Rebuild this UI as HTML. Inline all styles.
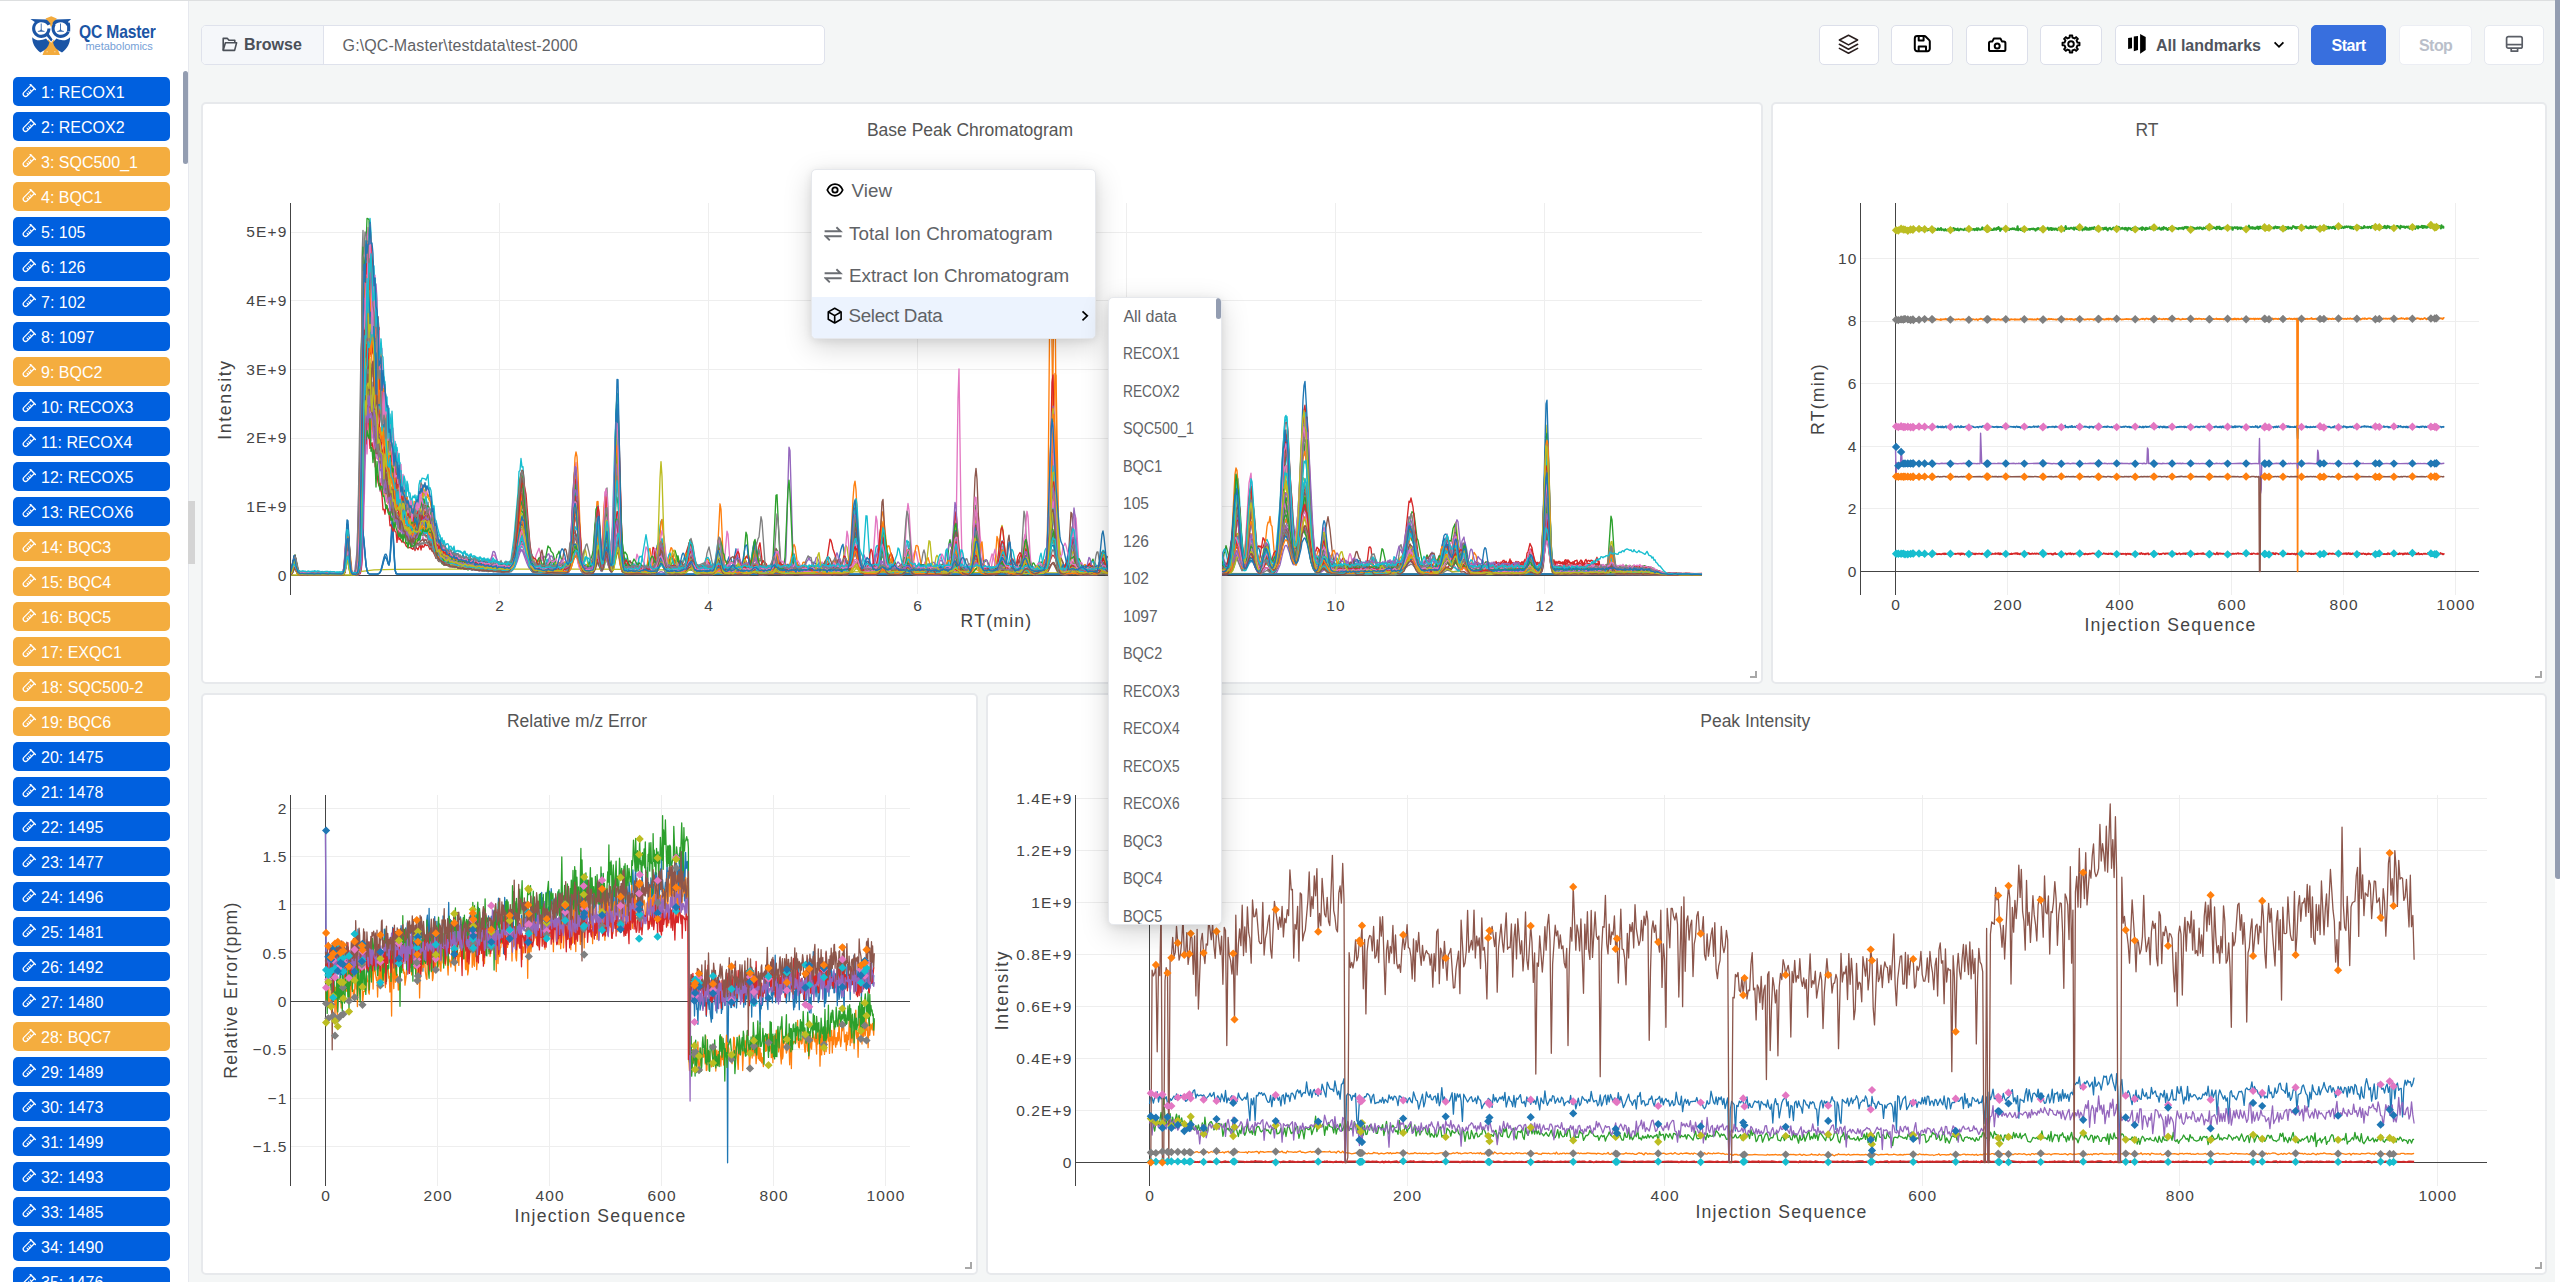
<!DOCTYPE html>
<html lang="en"><head><meta charset="utf-8"><title>QC Master</title>
<style>
*{box-sizing:border-box;margin:0;padding:0}
html,body{width:2560px;height:1282px;overflow:hidden;background:#f4f6f6;font-family:"Liberation Sans",sans-serif;}
body{position:relative}
.abs{position:absolute}
#topline{left:0;top:0;width:2560px;height:1px;background:#dddfe0}
#side{left:0;top:1px;width:189px;height:1281px;background:#fff;border-right:1px solid #e6e8ee;overflow:hidden}
.it{position:absolute;left:13px;width:157px;height:29px;border-radius:5px;color:#fff;font-size:16px;line-height:29px;white-space:nowrap}
.it.b{background:#0060df}
.it.o{background:#f4ad3f}
.it svg{position:absolute;left:8px;top:6.5px;width:15px;height:15px;fill:#fff}
.it span{position:absolute;left:28px;top:0.5px}
#sthumb{left:183.2px;top:71px;width:4.6px;height:93px;border-radius:3px;background:#939db1}
#handle{left:188px;top:501px;width:7px;height:63px;background:#d4d4d4}
#vthumb{left:2555px;top:0;width:6px;height:879px;border-radius:0 0 3px 3px;background:#939db1}
#vtrack{left:2555px;top:0;width:5px;height:1282px;background:#fff}
.panel{position:absolute;background:#fff;border:2px solid #e7e9ec;border-radius:5px}
.rh{position:absolute;right:3.9px;bottom:3.6px;width:7px;height:7px;border-right:2px solid #a8a8a8;border-bottom:2px solid #a8a8a8}
.btn{position:absolute;top:25px;height:39.6px;background:#fff;border:1px solid #dcdfea;border-radius:5px}
.btn svg{position:absolute}
#browse{left:201px;top:25px;width:624px;height:40px;border:1px solid #dfe2ec;border-radius:5px;background:#fff;overflow:hidden}
#browse .lab{position:absolute;left:0;top:0;width:122px;height:38px;background:#f5f7fa;border-right:1px solid #dfe2ec}
#browse .lab b{position:absolute;left:42px;top:9px;font-size:16px;line-height:20px;color:#4b5058}
#browse .val{position:absolute;left:140.6px;top:9.6px;font-size:16px;letter-spacing:.1px;line-height:20px;color:#606266;white-space:nowrap}
.ptitle{position:absolute;font-size:17.5px;color:#555;white-space:nowrap;transform:translateX(-50%);line-height:20px}
svg text{font-family:"Liberation Sans",sans-serif}
#menu{left:810.8px;top:168.8px;width:285px;height:169.8px;background:#fff;border:1px solid #e6e8ec;border-radius:5px;box-shadow:0 8px 28px rgba(0,0,0,.17),0 2px 8px rgba(0,0,0,.08);z-index:10;overflow:hidden}
#menu .row{position:absolute;left:0;width:285px;height:42px;font-size:18.8px;letter-spacing:.1px;color:#606266;white-space:nowrap}
#menu .row span{position:absolute;left:37.2px;top:9.4px;line-height:24px}
#menu .row svg{position:absolute}
#menu .hl{background:#ecf3fe}
#sub{left:1108.4px;top:296.6px;width:113.2px;height:628px;background:#fff;border:1px solid #e6e8ec;border-radius:5px;box-shadow:0 8px 28px rgba(0,0,0,.17),0 2px 8px rgba(0,0,0,.08);z-index:11;overflow:hidden}
#sub div{position:absolute;left:14px;font-size:16px;line-height:20px;color:#606266;white-space:nowrap;transform-origin:left center}
#sub i{position:absolute;left:106.2px;top:0;width:5.6px;height:21px;border-radius:3px;background:#939db1}
</style></head><body>

<div id="topline" class="abs"></div>
<div id="side" class="abs">
<svg class="abs" style="left:28px;top:13px" width="48" height="44" viewBox="28 14 48 44">
<g fill="#f3ab3d">
<path d="M51.2,16.3 L56.8,18.6 L52.6,24.6 L51.2,27.5 L49.8,24.6 L45.6,18.6Z"/>
<path d="M48.4,39.5 L51.2,42.8 L54,39.5 L59.9,55 L42.5,55Z"/>
</g>
<g fill="#1b55a5">
<path d="M30.4,19 L46,19.4 C48,20.3 49.6,22 50.6,24 L47.6,25.4 C46.2,23.2 43.9,22.2 41.3,22.2 C38,22.2 35.2,24.6 35.2,28.4 C35.2,32 38,34.8 41.3,34.8 C44.6,34.8 47.4,32.3 47.4,28.6 L50.4,28.6 C50.4,30.6 50,32.4 48.9,33.9 L52.6,39.6 L51.2,41.6 L46.8,36.2 C45.2,37.3 43.3,37.9 41.3,37.9 C36.2,37.9 32.1,33.7 32.1,28.5 C32.1,25.9 33.1,23.6 34.8,21.9Z"/>
<path d="M71.2,19 L56.4,19.4 C54.6,20.2 53.2,21.6 52.3,23.2 L55,24.8 C56.3,23.1 58.4,22.2 60.7,22.2 C63.4,22.2 65.6,23.6 66.6,25.8 L69.6,24.6 C69.2,23.6 68.6,22.7 67.9,21.9Z M66.9,31.2 C65.9,33.3 63.5,34.8 60.7,34.8 C57.3,34.8 54.6,32 54.6,28.5 C54.6,27.2 55,26 55.6,25 L53,23.4 C52.1,24.9 51.6,26.6 51.6,28.5 C51.6,33.7 55.7,37.9 60.7,37.9 C64.7,37.9 68.2,35.6 69.6,32.2Z"/>
<path d="M66.6,23 L69.6,22.4 C70.2,24 70.4,26 70.2,31.4 L67,31.6 C67.3,28 67.2,25 66.6,23Z"/>
<path d="M32.2,37.2 C35,40.6 40.6,41.4 46,38.6 L49.4,42.4 C48.6,46.6 45.6,50 40.4,52.4 C35,48.6 32.2,43.4 32.2,37.2Z"/>
<path d="M70.1,37.2 C67.3,40.6 61.7,41.4 56.4,38.6 L53,42.4 C53.8,46.6 56.8,50 62,52.4 C67.4,48.6 70.1,43.4 70.1,37.2Z"/>
<path d="M40.75,23.6h.9v5.6c.3,1 1.2,1.6 2.9,1.9v.7h-6.7v-.7c1.7,-.3 2.6,-.9 2.9,-1.9Z M60.05,23.6h.9v5.6c.3,1 1.2,1.6 2.9,1.9v.7h-6.7v-.7c1.7,-.3 2.6,-.9 2.9,-1.9Z" opacity=".9"/>
</g>
<path d="M46.5,51.2l1.6,.6l-1.2,.7Z M55.5,51.2l-1.6,.6l1.2,.7Z" fill="#fff" opacity=".8"/>
</svg>
<div class="abs" style="left:79px;top:19.8px;font-size:18.5px;font-weight:bold;color:#1b55a5;letter-spacing:-0.2px;line-height:22px;white-space:nowrap;transform:scaleX(.845);transform-origin:left center">QC Master</div>
<div class="abs" style="left:85.5px;top:38px;font-size:11px;color:#4f86cc;line-height:14px;white-space:nowrap;letter-spacing:-0.05px;opacity:.78">metabolomics</div>

<div class="it b" style="top:76px"><svg viewBox="-7.9 -7.7 16 16"><g transform="rotate(45)" fill="none" stroke="#fff" stroke-linecap="round" stroke-linejoin="round"><path d="M-3.9,-6.6H3.9" stroke-width="1.5"/><path d="M-2.5,-6.6V4.3A2.5,2.5 0 0 0 2.5,4.3V-6.6" stroke-width="1.3"/><path d="M2.5,-2.3H0.4M2.5,0.1H0.4M2.5,2.5H0.4" stroke-width="1.1"/></g></svg><span>1: RECOX1</span></div>
<div class="it b" style="top:111px"><svg viewBox="-7.9 -7.7 16 16"><g transform="rotate(45)" fill="none" stroke="#fff" stroke-linecap="round" stroke-linejoin="round"><path d="M-3.9,-6.6H3.9" stroke-width="1.5"/><path d="M-2.5,-6.6V4.3A2.5,2.5 0 0 0 2.5,4.3V-6.6" stroke-width="1.3"/><path d="M2.5,-2.3H0.4M2.5,0.1H0.4M2.5,2.5H0.4" stroke-width="1.1"/></g></svg><span>2: RECOX2</span></div>
<div class="it o" style="top:146px"><svg viewBox="-7.9 -7.7 16 16"><g transform="rotate(45)" fill="none" stroke="#fff" stroke-linecap="round" stroke-linejoin="round"><path d="M-3.9,-6.6H3.9" stroke-width="1.5"/><path d="M-2.5,-6.6V4.3A2.5,2.5 0 0 0 2.5,4.3V-6.6" stroke-width="1.3"/><path d="M2.5,-2.3H0.4M2.5,0.1H0.4M2.5,2.5H0.4" stroke-width="1.1"/></g></svg><span>3: SQC500_1</span></div>
<div class="it o" style="top:181px"><svg viewBox="-7.9 -7.7 16 16"><g transform="rotate(45)" fill="none" stroke="#fff" stroke-linecap="round" stroke-linejoin="round"><path d="M-3.9,-6.6H3.9" stroke-width="1.5"/><path d="M-2.5,-6.6V4.3A2.5,2.5 0 0 0 2.5,4.3V-6.6" stroke-width="1.3"/><path d="M2.5,-2.3H0.4M2.5,0.1H0.4M2.5,2.5H0.4" stroke-width="1.1"/></g></svg><span>4: BQC1</span></div>
<div class="it b" style="top:216px"><svg viewBox="-7.9 -7.7 16 16"><g transform="rotate(45)" fill="none" stroke="#fff" stroke-linecap="round" stroke-linejoin="round"><path d="M-3.9,-6.6H3.9" stroke-width="1.5"/><path d="M-2.5,-6.6V4.3A2.5,2.5 0 0 0 2.5,4.3V-6.6" stroke-width="1.3"/><path d="M2.5,-2.3H0.4M2.5,0.1H0.4M2.5,2.5H0.4" stroke-width="1.1"/></g></svg><span>5: 105</span></div>
<div class="it b" style="top:251px"><svg viewBox="-7.9 -7.7 16 16"><g transform="rotate(45)" fill="none" stroke="#fff" stroke-linecap="round" stroke-linejoin="round"><path d="M-3.9,-6.6H3.9" stroke-width="1.5"/><path d="M-2.5,-6.6V4.3A2.5,2.5 0 0 0 2.5,4.3V-6.6" stroke-width="1.3"/><path d="M2.5,-2.3H0.4M2.5,0.1H0.4M2.5,2.5H0.4" stroke-width="1.1"/></g></svg><span>6: 126</span></div>
<div class="it b" style="top:286px"><svg viewBox="-7.9 -7.7 16 16"><g transform="rotate(45)" fill="none" stroke="#fff" stroke-linecap="round" stroke-linejoin="round"><path d="M-3.9,-6.6H3.9" stroke-width="1.5"/><path d="M-2.5,-6.6V4.3A2.5,2.5 0 0 0 2.5,4.3V-6.6" stroke-width="1.3"/><path d="M2.5,-2.3H0.4M2.5,0.1H0.4M2.5,2.5H0.4" stroke-width="1.1"/></g></svg><span>7: 102</span></div>
<div class="it b" style="top:321px"><svg viewBox="-7.9 -7.7 16 16"><g transform="rotate(45)" fill="none" stroke="#fff" stroke-linecap="round" stroke-linejoin="round"><path d="M-3.9,-6.6H3.9" stroke-width="1.5"/><path d="M-2.5,-6.6V4.3A2.5,2.5 0 0 0 2.5,4.3V-6.6" stroke-width="1.3"/><path d="M2.5,-2.3H0.4M2.5,0.1H0.4M2.5,2.5H0.4" stroke-width="1.1"/></g></svg><span>8: 1097</span></div>
<div class="it o" style="top:356px"><svg viewBox="-7.9 -7.7 16 16"><g transform="rotate(45)" fill="none" stroke="#fff" stroke-linecap="round" stroke-linejoin="round"><path d="M-3.9,-6.6H3.9" stroke-width="1.5"/><path d="M-2.5,-6.6V4.3A2.5,2.5 0 0 0 2.5,4.3V-6.6" stroke-width="1.3"/><path d="M2.5,-2.3H0.4M2.5,0.1H0.4M2.5,2.5H0.4" stroke-width="1.1"/></g></svg><span>9: BQC2</span></div>
<div class="it b" style="top:391px"><svg viewBox="-7.9 -7.7 16 16"><g transform="rotate(45)" fill="none" stroke="#fff" stroke-linecap="round" stroke-linejoin="round"><path d="M-3.9,-6.6H3.9" stroke-width="1.5"/><path d="M-2.5,-6.6V4.3A2.5,2.5 0 0 0 2.5,4.3V-6.6" stroke-width="1.3"/><path d="M2.5,-2.3H0.4M2.5,0.1H0.4M2.5,2.5H0.4" stroke-width="1.1"/></g></svg><span>10: RECOX3</span></div>
<div class="it b" style="top:426px"><svg viewBox="-7.9 -7.7 16 16"><g transform="rotate(45)" fill="none" stroke="#fff" stroke-linecap="round" stroke-linejoin="round"><path d="M-3.9,-6.6H3.9" stroke-width="1.5"/><path d="M-2.5,-6.6V4.3A2.5,2.5 0 0 0 2.5,4.3V-6.6" stroke-width="1.3"/><path d="M2.5,-2.3H0.4M2.5,0.1H0.4M2.5,2.5H0.4" stroke-width="1.1"/></g></svg><span>11: RECOX4</span></div>
<div class="it b" style="top:461px"><svg viewBox="-7.9 -7.7 16 16"><g transform="rotate(45)" fill="none" stroke="#fff" stroke-linecap="round" stroke-linejoin="round"><path d="M-3.9,-6.6H3.9" stroke-width="1.5"/><path d="M-2.5,-6.6V4.3A2.5,2.5 0 0 0 2.5,4.3V-6.6" stroke-width="1.3"/><path d="M2.5,-2.3H0.4M2.5,0.1H0.4M2.5,2.5H0.4" stroke-width="1.1"/></g></svg><span>12: RECOX5</span></div>
<div class="it b" style="top:496px"><svg viewBox="-7.9 -7.7 16 16"><g transform="rotate(45)" fill="none" stroke="#fff" stroke-linecap="round" stroke-linejoin="round"><path d="M-3.9,-6.6H3.9" stroke-width="1.5"/><path d="M-2.5,-6.6V4.3A2.5,2.5 0 0 0 2.5,4.3V-6.6" stroke-width="1.3"/><path d="M2.5,-2.3H0.4M2.5,0.1H0.4M2.5,2.5H0.4" stroke-width="1.1"/></g></svg><span>13: RECOX6</span></div>
<div class="it o" style="top:531px"><svg viewBox="-7.9 -7.7 16 16"><g transform="rotate(45)" fill="none" stroke="#fff" stroke-linecap="round" stroke-linejoin="round"><path d="M-3.9,-6.6H3.9" stroke-width="1.5"/><path d="M-2.5,-6.6V4.3A2.5,2.5 0 0 0 2.5,4.3V-6.6" stroke-width="1.3"/><path d="M2.5,-2.3H0.4M2.5,0.1H0.4M2.5,2.5H0.4" stroke-width="1.1"/></g></svg><span>14: BQC3</span></div>
<div class="it o" style="top:566px"><svg viewBox="-7.9 -7.7 16 16"><g transform="rotate(45)" fill="none" stroke="#fff" stroke-linecap="round" stroke-linejoin="round"><path d="M-3.9,-6.6H3.9" stroke-width="1.5"/><path d="M-2.5,-6.6V4.3A2.5,2.5 0 0 0 2.5,4.3V-6.6" stroke-width="1.3"/><path d="M2.5,-2.3H0.4M2.5,0.1H0.4M2.5,2.5H0.4" stroke-width="1.1"/></g></svg><span>15: BQC4</span></div>
<div class="it o" style="top:601px"><svg viewBox="-7.9 -7.7 16 16"><g transform="rotate(45)" fill="none" stroke="#fff" stroke-linecap="round" stroke-linejoin="round"><path d="M-3.9,-6.6H3.9" stroke-width="1.5"/><path d="M-2.5,-6.6V4.3A2.5,2.5 0 0 0 2.5,4.3V-6.6" stroke-width="1.3"/><path d="M2.5,-2.3H0.4M2.5,0.1H0.4M2.5,2.5H0.4" stroke-width="1.1"/></g></svg><span>16: BQC5</span></div>
<div class="it o" style="top:636px"><svg viewBox="-7.9 -7.7 16 16"><g transform="rotate(45)" fill="none" stroke="#fff" stroke-linecap="round" stroke-linejoin="round"><path d="M-3.9,-6.6H3.9" stroke-width="1.5"/><path d="M-2.5,-6.6V4.3A2.5,2.5 0 0 0 2.5,4.3V-6.6" stroke-width="1.3"/><path d="M2.5,-2.3H0.4M2.5,0.1H0.4M2.5,2.5H0.4" stroke-width="1.1"/></g></svg><span>17: EXQC1</span></div>
<div class="it o" style="top:671px"><svg viewBox="-7.9 -7.7 16 16"><g transform="rotate(45)" fill="none" stroke="#fff" stroke-linecap="round" stroke-linejoin="round"><path d="M-3.9,-6.6H3.9" stroke-width="1.5"/><path d="M-2.5,-6.6V4.3A2.5,2.5 0 0 0 2.5,4.3V-6.6" stroke-width="1.3"/><path d="M2.5,-2.3H0.4M2.5,0.1H0.4M2.5,2.5H0.4" stroke-width="1.1"/></g></svg><span>18: SQC500-2</span></div>
<div class="it o" style="top:706px"><svg viewBox="-7.9 -7.7 16 16"><g transform="rotate(45)" fill="none" stroke="#fff" stroke-linecap="round" stroke-linejoin="round"><path d="M-3.9,-6.6H3.9" stroke-width="1.5"/><path d="M-2.5,-6.6V4.3A2.5,2.5 0 0 0 2.5,4.3V-6.6" stroke-width="1.3"/><path d="M2.5,-2.3H0.4M2.5,0.1H0.4M2.5,2.5H0.4" stroke-width="1.1"/></g></svg><span>19: BQC6</span></div>
<div class="it b" style="top:741px"><svg viewBox="-7.9 -7.7 16 16"><g transform="rotate(45)" fill="none" stroke="#fff" stroke-linecap="round" stroke-linejoin="round"><path d="M-3.9,-6.6H3.9" stroke-width="1.5"/><path d="M-2.5,-6.6V4.3A2.5,2.5 0 0 0 2.5,4.3V-6.6" stroke-width="1.3"/><path d="M2.5,-2.3H0.4M2.5,0.1H0.4M2.5,2.5H0.4" stroke-width="1.1"/></g></svg><span>20: 1475</span></div>
<div class="it b" style="top:776px"><svg viewBox="-7.9 -7.7 16 16"><g transform="rotate(45)" fill="none" stroke="#fff" stroke-linecap="round" stroke-linejoin="round"><path d="M-3.9,-6.6H3.9" stroke-width="1.5"/><path d="M-2.5,-6.6V4.3A2.5,2.5 0 0 0 2.5,4.3V-6.6" stroke-width="1.3"/><path d="M2.5,-2.3H0.4M2.5,0.1H0.4M2.5,2.5H0.4" stroke-width="1.1"/></g></svg><span>21: 1478</span></div>
<div class="it b" style="top:811px"><svg viewBox="-7.9 -7.7 16 16"><g transform="rotate(45)" fill="none" stroke="#fff" stroke-linecap="round" stroke-linejoin="round"><path d="M-3.9,-6.6H3.9" stroke-width="1.5"/><path d="M-2.5,-6.6V4.3A2.5,2.5 0 0 0 2.5,4.3V-6.6" stroke-width="1.3"/><path d="M2.5,-2.3H0.4M2.5,0.1H0.4M2.5,2.5H0.4" stroke-width="1.1"/></g></svg><span>22: 1495</span></div>
<div class="it b" style="top:846px"><svg viewBox="-7.9 -7.7 16 16"><g transform="rotate(45)" fill="none" stroke="#fff" stroke-linecap="round" stroke-linejoin="round"><path d="M-3.9,-6.6H3.9" stroke-width="1.5"/><path d="M-2.5,-6.6V4.3A2.5,2.5 0 0 0 2.5,4.3V-6.6" stroke-width="1.3"/><path d="M2.5,-2.3H0.4M2.5,0.1H0.4M2.5,2.5H0.4" stroke-width="1.1"/></g></svg><span>23: 1477</span></div>
<div class="it b" style="top:881px"><svg viewBox="-7.9 -7.7 16 16"><g transform="rotate(45)" fill="none" stroke="#fff" stroke-linecap="round" stroke-linejoin="round"><path d="M-3.9,-6.6H3.9" stroke-width="1.5"/><path d="M-2.5,-6.6V4.3A2.5,2.5 0 0 0 2.5,4.3V-6.6" stroke-width="1.3"/><path d="M2.5,-2.3H0.4M2.5,0.1H0.4M2.5,2.5H0.4" stroke-width="1.1"/></g></svg><span>24: 1496</span></div>
<div class="it b" style="top:916px"><svg viewBox="-7.9 -7.7 16 16"><g transform="rotate(45)" fill="none" stroke="#fff" stroke-linecap="round" stroke-linejoin="round"><path d="M-3.9,-6.6H3.9" stroke-width="1.5"/><path d="M-2.5,-6.6V4.3A2.5,2.5 0 0 0 2.5,4.3V-6.6" stroke-width="1.3"/><path d="M2.5,-2.3H0.4M2.5,0.1H0.4M2.5,2.5H0.4" stroke-width="1.1"/></g></svg><span>25: 1481</span></div>
<div class="it b" style="top:951px"><svg viewBox="-7.9 -7.7 16 16"><g transform="rotate(45)" fill="none" stroke="#fff" stroke-linecap="round" stroke-linejoin="round"><path d="M-3.9,-6.6H3.9" stroke-width="1.5"/><path d="M-2.5,-6.6V4.3A2.5,2.5 0 0 0 2.5,4.3V-6.6" stroke-width="1.3"/><path d="M2.5,-2.3H0.4M2.5,0.1H0.4M2.5,2.5H0.4" stroke-width="1.1"/></g></svg><span>26: 1492</span></div>
<div class="it b" style="top:986px"><svg viewBox="-7.9 -7.7 16 16"><g transform="rotate(45)" fill="none" stroke="#fff" stroke-linecap="round" stroke-linejoin="round"><path d="M-3.9,-6.6H3.9" stroke-width="1.5"/><path d="M-2.5,-6.6V4.3A2.5,2.5 0 0 0 2.5,4.3V-6.6" stroke-width="1.3"/><path d="M2.5,-2.3H0.4M2.5,0.1H0.4M2.5,2.5H0.4" stroke-width="1.1"/></g></svg><span>27: 1480</span></div>
<div class="it o" style="top:1021px"><svg viewBox="-7.9 -7.7 16 16"><g transform="rotate(45)" fill="none" stroke="#fff" stroke-linecap="round" stroke-linejoin="round"><path d="M-3.9,-6.6H3.9" stroke-width="1.5"/><path d="M-2.5,-6.6V4.3A2.5,2.5 0 0 0 2.5,4.3V-6.6" stroke-width="1.3"/><path d="M2.5,-2.3H0.4M2.5,0.1H0.4M2.5,2.5H0.4" stroke-width="1.1"/></g></svg><span>28: BQC7</span></div>
<div class="it b" style="top:1056px"><svg viewBox="-7.9 -7.7 16 16"><g transform="rotate(45)" fill="none" stroke="#fff" stroke-linecap="round" stroke-linejoin="round"><path d="M-3.9,-6.6H3.9" stroke-width="1.5"/><path d="M-2.5,-6.6V4.3A2.5,2.5 0 0 0 2.5,4.3V-6.6" stroke-width="1.3"/><path d="M2.5,-2.3H0.4M2.5,0.1H0.4M2.5,2.5H0.4" stroke-width="1.1"/></g></svg><span>29: 1489</span></div>
<div class="it b" style="top:1091px"><svg viewBox="-7.9 -7.7 16 16"><g transform="rotate(45)" fill="none" stroke="#fff" stroke-linecap="round" stroke-linejoin="round"><path d="M-3.9,-6.6H3.9" stroke-width="1.5"/><path d="M-2.5,-6.6V4.3A2.5,2.5 0 0 0 2.5,4.3V-6.6" stroke-width="1.3"/><path d="M2.5,-2.3H0.4M2.5,0.1H0.4M2.5,2.5H0.4" stroke-width="1.1"/></g></svg><span>30: 1473</span></div>
<div class="it b" style="top:1126px"><svg viewBox="-7.9 -7.7 16 16"><g transform="rotate(45)" fill="none" stroke="#fff" stroke-linecap="round" stroke-linejoin="round"><path d="M-3.9,-6.6H3.9" stroke-width="1.5"/><path d="M-2.5,-6.6V4.3A2.5,2.5 0 0 0 2.5,4.3V-6.6" stroke-width="1.3"/><path d="M2.5,-2.3H0.4M2.5,0.1H0.4M2.5,2.5H0.4" stroke-width="1.1"/></g></svg><span>31: 1499</span></div>
<div class="it b" style="top:1161px"><svg viewBox="-7.9 -7.7 16 16"><g transform="rotate(45)" fill="none" stroke="#fff" stroke-linecap="round" stroke-linejoin="round"><path d="M-3.9,-6.6H3.9" stroke-width="1.5"/><path d="M-2.5,-6.6V4.3A2.5,2.5 0 0 0 2.5,4.3V-6.6" stroke-width="1.3"/><path d="M2.5,-2.3H0.4M2.5,0.1H0.4M2.5,2.5H0.4" stroke-width="1.1"/></g></svg><span>32: 1493</span></div>
<div class="it b" style="top:1196px"><svg viewBox="-7.9 -7.7 16 16"><g transform="rotate(45)" fill="none" stroke="#fff" stroke-linecap="round" stroke-linejoin="round"><path d="M-3.9,-6.6H3.9" stroke-width="1.5"/><path d="M-2.5,-6.6V4.3A2.5,2.5 0 0 0 2.5,4.3V-6.6" stroke-width="1.3"/><path d="M2.5,-2.3H0.4M2.5,0.1H0.4M2.5,2.5H0.4" stroke-width="1.1"/></g></svg><span>33: 1485</span></div>
<div class="it b" style="top:1231px"><svg viewBox="-7.9 -7.7 16 16"><g transform="rotate(45)" fill="none" stroke="#fff" stroke-linecap="round" stroke-linejoin="round"><path d="M-3.9,-6.6H3.9" stroke-width="1.5"/><path d="M-2.5,-6.6V4.3A2.5,2.5 0 0 0 2.5,4.3V-6.6" stroke-width="1.3"/><path d="M2.5,-2.3H0.4M2.5,0.1H0.4M2.5,2.5H0.4" stroke-width="1.1"/></g></svg><span>34: 1490</span></div>
<div class="it b" style="top:1266px"><svg viewBox="-7.9 -7.7 16 16"><g transform="rotate(45)" fill="none" stroke="#fff" stroke-linecap="round" stroke-linejoin="round"><path d="M-3.9,-6.6H3.9" stroke-width="1.5"/><path d="M-2.5,-6.6V4.3A2.5,2.5 0 0 0 2.5,4.3V-6.6" stroke-width="1.3"/><path d="M2.5,-2.3H0.4M2.5,0.1H0.4M2.5,2.5H0.4" stroke-width="1.1"/></g></svg><span>35: 1476</span></div>
<div id="sthumb" class="abs" style="top:70px"></div>
</div>
<div id="handle" class="abs"></div>
<div id="vtrack" class="abs"></div><div id="vthumb" class="abs"></div>
<div id="browse" class="abs"><div class="lab"><svg style="position:absolute;left:20px;top:11px" width="17" height="15" viewBox="0 0 17 15" fill="none" stroke="#4b5058" stroke-width="1.6" stroke-linejoin="round"><path d="M1.2,13.2V1.4h4.2l1.6,1.9h5.8v2.4"/><path d="M1.2,13.4L3.4,5.7H14.6L12.6,13.4Z"/></svg><b>Browse</b></div><div class="val">G:\QC-Master\testdata\test-2000</div></div>
<div class="btn" style="left:1819px;width:59.6px"><svg style="left:18.2px;top:7.5px" width="21" height="21" viewBox="0 0 21 21" fill="none" stroke="#2a1f1f" stroke-width="1.6" stroke-linejoin="round" stroke-linecap="round"><path d="M10.5,1.3L19.6,6L10.5,10.9L1.4,6Z"/><path d="M1.4,10.3L10.5,15.2L19.6,10.3"/><path d="M1.4,14.4L10.5,19.3L19.6,14.4"/></svg></div>
<div class="btn" style="left:1891.2px;width:61.4px"><svg style="left:20.4px;top:8.2px" width="19" height="19" viewBox="0 0 19 19" fill="none" stroke="#000" stroke-width="2" stroke-linejoin="round"><path d="M4.2,2.1H11.4Q12.2,2.1 12.8,2.7L16.2,6.1Q16.8,6.7 16.8,7.5V14.8A2.4,2.4 0 0 1 14.4,17.2H4.2A2.4,2.4 0 0 1 1.8,14.8V4.5A2.4,2.4 0 0 1 4.2,2.1Z"/><path d="M5.7,2.3V6.4H10.6V2.3"/><path d="M5.7,17.1V12.4H13V17.1"/></svg></div>
<div class="btn" style="left:1966.2px;width:61.4px"><svg style="left:19.4px;top:9.6px" width="21" height="18" viewBox="0 0 21 18" fill="none" stroke="#000" stroke-width="2" stroke-linejoin="round"><path d="M3.6,5.4H5.4L6.9,2.4H13.4L14.9,5.4H16.8A1.6,1.6 0 0 1 18.4,7V13.4A1.6,1.6 0 0 1 16.8,15H3.6A1.6,1.6 0 0 1 2,13.4V7A1.6,1.6 0 0 1 3.6,5.4Z"/><circle cx="10.2" cy="9.9" r="2.5"/></svg></div>
<div class="btn" style="left:2040.2px;width:61.4px"><svg style="left:20.2px;top:8.2px" width="20" height="20" viewBox="0 0 20 20" fill="none" stroke="#000" stroke-width="1.9" stroke-linejoin="round"><path d="M8.62,3.54 L8.71,1.50 L11.29,1.50 L11.38,3.54 L13.59,4.46 L15.10,3.08 L16.92,4.90 L15.54,6.41 L16.46,8.62 L18.50,8.71 L18.50,11.29 L16.46,11.38 L15.54,13.59 L16.92,15.10 L15.10,16.92 L13.59,15.54 L11.38,16.46 L11.29,18.50 L8.71,18.50 L8.62,16.46 L6.41,15.54 L4.90,16.92 L3.08,15.10 L4.46,13.59 L3.54,11.38 L1.50,11.29 L1.50,8.71 L3.54,8.62 L4.46,6.41 L3.08,4.90 L4.90,3.08 L6.41,4.46Z"/><circle cx="10" cy="10" r="2.8"/></svg></div>
<div class="btn" style="left:2115px;width:184px"><svg style="left:11px;top:8px" width="20" height="22" viewBox="0 0 20 22" fill="#000"><path d="M1.1,4.1L5,3.6V14.2L1.1,14.9Z"/><path d="M6.8,2.4L11,1.9V16L6.8,17.2Z"/><path d="M13.1,0L18.7,2.9V15.9L13.1,19.8Z"/></svg><b class="abs" style="left:40px;top:9.5px;font-size:16px;line-height:20px;color:#4f545d;white-space:nowrap">All landmarks</b><svg style="left:157px;top:15px" width="12" height="8" viewBox="0 0 12 8" fill="none" stroke="#000" stroke-width="1.8"><path d="M1.6,1.3L6,5.8L10.4,1.3"/></svg></div>
<div class="btn" style="left:2311px;width:75px;background:#386fde;border-color:#386fde"><b class="abs" style="left:19.5px;top:9.5px;font-size:16px;line-height:20px;color:#fff;letter-spacing:-0.45px">Start</b></div>
<div class="btn" style="left:2398.5px;width:73px;border-color:#eceef4"><b class="abs" style="left:19.5px;top:9.5px;font-size:16px;line-height:20px;color:#babfca;letter-spacing:-0.55px">Stop</b></div>
<div class="btn" style="left:2484px;width:60px;border-color:#e6e9f0"><svg style="left:20px;top:9px" width="19" height="19" viewBox="0 0 19 19" fill="none" stroke="#5a5e66" stroke-width="1.7" stroke-linejoin="round"><rect x="1.6" y="1.6" width="15.6" height="11.6" rx="1.8"/><path d="M1.6,9.6H17.2"/><path d="M6.2,13.4V16.2H12.6V13.4"/></svg></div>
<div class="panel" id="p_bpc" style="left:201px;top:101.5px;width:1562px;height:582px"><div class="rh"></div></div>
<div class="ptitle" style="left:970px;top:120px">Base Peak Chromatogram</div>
<div class="panel" id="p_rt" style="left:1771.3px;top:101.5px;width:776.2px;height:582px"><div class="rh"></div></div>
<div class="ptitle" style="left:2147px;top:120px">RT</div>
<div class="panel" id="p_mz" style="left:201px;top:693px;width:777px;height:582px"><div class="rh"></div></div>
<div class="ptitle" style="left:577px;top:711px">Relative m/z Error</div>
<div class="panel" id="p_pi" style="left:986.3px;top:693px;width:1561.2px;height:582px"><div class="rh"></div></div>
<div class="ptitle" style="left:1755.2px;top:711px">Peak Intensity</div>
<svg class="abs" style="left:203px;top:150px;z-index:2" width="1557" height="520" viewBox="203 150 1557 520" fill="none" stroke-linejoin="round" stroke-linecap="butt"><path d="M291,506.5H1702" stroke="#eee" stroke-width="1" shape-rendering="crispEdges"/><path d="M291,438.5H1702" stroke="#eee" stroke-width="1" shape-rendering="crispEdges"/><path d="M291,369.5H1702" stroke="#eee" stroke-width="1" shape-rendering="crispEdges"/><path d="M291,300.5H1702" stroke="#eee" stroke-width="1" shape-rendering="crispEdges"/><path d="M291,232.5H1702" stroke="#eee" stroke-width="1" shape-rendering="crispEdges"/><path d="M499.5,203V593.5" stroke="#eee" stroke-width="1" shape-rendering="crispEdges"/><path d="M708.5,203V593.5" stroke="#eee" stroke-width="1" shape-rendering="crispEdges"/><path d="M917.5,203V593.5" stroke="#eee" stroke-width="1" shape-rendering="crispEdges"/><path d="M1126.5,203V593.5" stroke="#eee" stroke-width="1" shape-rendering="crispEdges"/><path d="M1335.5,203V593.5" stroke="#eee" stroke-width="1" shape-rendering="crispEdges"/><path d="M1544.5,203V593.5" stroke="#eee" stroke-width="1" shape-rendering="crispEdges"/><path d="M291,575.5H1702" stroke="#444" stroke-width="1" shape-rendering="crispEdges"/><g stroke-width="1.35"><path d="M291,571.4l2-5.5 1-1.4 3,7.6 2,1.4 1-0.8 6,0.6 2-0.3 5,0 1-0.6 1,0.8 1-0.6 2,0.7 1-0.5 1,0.6 2,0 1-0.4 4,0.5 1-0.6 1,0.4 4,0.1 3-0.4 2,0.5 3-0.4 1,0.5 1-1.8 1-4.3 3-39.6 1,3.2 2,34.4 1,6 1,1.6 1,0.5 4,0.2 1-0.2 2-2.2 1-9 1-19.1 1-41.5 3-194.3 1,24.6 2-35.3 1,5.8 1-12.9 1,12.4 1-5.8 1,20.9 1-15.1 2,33 1,4.7 1,20.9 1-5.1 1,29.6 1-2.4 1,22 1-12.7 2,43.3 1-16.1 1,8.9 2-10.1 1,31.4 2,4.5 1-2.3 2,16.1 1-9.6 2,26 1-2.1 1,3.1 1,5.8 1-2.5 1,6.2 1-5.4 3,20.4 1-4 1,11.7 2-7.7 1,7.9 1-9.7 1,9.6 1-8.5 1,5.2 1-5.1 1-1 1,6.4 2-17.5 1,10.7 1,1.1 1-0.5 1,5.9 1-7.5 1,4.8 1,1.5 1,0.1 1,1.8 1,9.8 1-3.8 1,7.2 1,2.1 1,7.7 2,3.5 1,2.8 1-0.9 2,4.3 1-0.6 1,2.7 1-4.7 1,4.7 1,0.4 1,1.2 1-2.3 1,5.6 1-3.2 2,5 1-5.1 1,2.1 1,0.8 2-0.4 1,3.4 1-0.9 1,2.5 2-4.2 1,3.1 3,1.3 1,1.2 1-1.9 1,3.5 1-1.9 3-0.4 1,2.2 1-0.4 1,0.8 1-1.3 2,2 1-1.9 1,1.7 1-1.3 1-0.1 1,1.2 1-1.5 1,3.2 1-0.1 3-1.6 1,1.1 1,0.4 2,0 1,1 1-0.8 1-0.1 1,1.3 1,0.5 1-0.1 1-1.4 1,1.4 1-1 1,1.8 1-0.1 1-1.2 2,2.2 1-1.3 1,0.1 1-1.8 1-0.2 2-5.9 5-43 2-10.5 2,6.7 5,48.5 2,6.4 2,0.6 1,2.1 1-0.7 2,0.9 3-1.4 1,1.4 3-0.5 1,0.6 2-0.5 3,0.5 1-0.9 3,0.7 1-0.6 1,0.7 2,0.4 2-0.9 1,1 1-0.9 1,1 1-0.3 1,0.7 1-1.9 1,0.7 1-1.4 1-4.7 2-19.8 3-63.2 1-12.6 2,22.7 3,59.3 2,16.4 2,3.9 1-0.1 1,0.8 1-0.4 1,0.4 1-0.6 2,0.3 1-0.9 1-2 1-4.2 2-16 1-2.9 1,0 2,17.9 1,4.5 1,0.6 4-9.5 1,1.8 1,4.7 2,4.2 1-3.1 1-10.2 1-19.7 2-66.2 1-17.8 1-7.5 3,87 2,34.4 1,3.1 1,1.6 3,0 1,0.9 1-0.8 1,1.1 1-0.9 1,0.2 1-1 2,1.7 2-1 1,0.8 3-0.9 2,0.6 1-0.8 1,0.7 2,0.1 1,0 1-0.6 1,0.9 2-1.5 1,1.1 2-5 2-19.5 1-2.5 2,10.8 1,0.9 1-0.8 3,11.8 2,2.8 1,0.1 1,1.4 1-1.3 2-0.7 3-6.9 1-1.7 1-0.1 2,5.7 1,0.9 1,2.3 1,1.1 1-0.5 1,0.1 2-4.3 2-9.1 1-7.1 1-1.4 1,1.4 1,3.7 3,13.7 1,0.3 1,2.6 1,0.1 1,0.8 3-1.8 1,1.5 2-0.5 2,0.4 1-0.4 1,0.7 1-1 1-0.1 3,1 1-1.8 1,1.6 1-1.8 1-0.2 2,1.2 1-1.1 1-0.1 1,1.5 1-0.4 2-2.8 3-9.3 1,1.8 1-0.1 1,4.4 1,1.5 3-15.5 2,11.9 1,3.3 2,1.9 1-2.2 1-0.2 1,0.5 1,1.8 2,2.2 1-0.8 1,1.2 2-6.9 2-14.1 1-4.4 1-1.8 4,25.2 2,2.6 1-1.4 2,1.2 1-1.1 1,0.1 1,2.5 1-1.9 1,0.9 2-2.9 1,2.4 5-2.2 1,1.8 1-2.3 1,1.7 2-1.8 1,0.2 1,1.1 1,0 1-0.6 2-2.5 1,2.7 1-0.7 1,1.1 2,0.9 1-1 1-0.1 2-1.3 1-1.4 1,2.9 1-1.6 1,1.7 3,2.2 1-1 1,0.4 1-0.9 1,1.5 1-2.4 1,1.5 2-0.2 2,1 2-1.3 2,1.2 1-0.7 1,0.4 6-8.3 2,1.2 1,3.4 2-0.5 2-3.7 3,3.2 2-1.8 3-13.4 1-3.3 1-1.6 1,9.5 1,3 1,6.1 1,3.8 2,2 1-0.3 2-4.9 2-12.8 1-1.6 1-0.6 1,1.8 2,12.6 2,6.9 1-1.8 1-0.1 2,1 1,1.3 1-0.5 2,0 1-0.9 1,1.1 1-0.4 1,1.6 1-1.5 3,0.4 1-1.8 1-0.2 3-15.3 2-6.5 1,2.8 1,0.3 2,11.3 3,7.2 1-0.9 1,0.5 1-0.2 1,2.7 1-0.4 2,0.9 1-0.6 3,0.7 1-1.7 3-14.2 1-2.1 1-0.6 3,14.5 1,2.6 1-0.1 2,1.1 3-0.1 1,0.8 2-0.3 3,0.6 3-1 1,1.6 2-0.8 3,0.2 1-0.7 2,1 1-1.2 2,1.1 1-0.8 1,0.6 1-0.8 2,1.1 6-0.6 1,0.8 1-3.9 1-2 1-6.2 1-2.7 1-1.3 4,14.2 2,1.8 3-0.8 1,0.7 1-0.3 1,0.2 2-1.4 1-2 1-7.1 1-10.5 2-37.1 1,0.9 1,7.8 3,42.4 2,6.2 2,1.1 2,0.2 1-0.9 1,0 3,0.7 1-0.5 1,0.8 1-1.2 1-0.1 1-1 1,0.6 1-0.3 2-1.5 2-4.1 1,0 1,2.1 2,2.4 2,1.1 1,1.4 2,0.1 1-1.3 3,0.8 1-0.9 1,0.1 1-0.5 3,0.9 1-0.9 4,0.3 1-1.1 1,1 1-0.2 2,1.8 1-1.7 1,1.3 1-0.9 1,0.1 1,1 3-0.6 1,0.4 1-1 2-0.1 1,0.6 2-0.3 2-3.8 1-4.3 4-43.6 1,0.7 4,43.5 1,4 2,4.2 1-1.5 1,0.7 1-1.3 1,1.3 1-0.1 2-1.4 1,0 1-0.9 1,0.3 3-2.3 1,1.7 3,1.5 1-0.5 2,1.2 1-0.7 3,0 2,1.7 1-1.3 1,1.1 1-1.3 1-0.1 1,1.4 1-1.7 1-0.3 1,0.4 2-1.5 1,1.1 4-12.9 1-1.1 1-0.2 4,13.3 1,1.2 1-0.9 2,0.4 1,1.2 2-2.4 1-3 1-4.2 1-8.2 1-2.9 1-6.1 2,5.2 4,18.9 2,0.8 1-1.9 2,0.4 1-0.4 1-1.2 1-3.7 2-10.1 1-10.9 3-9.5 4,28.5 2,6.3 1,0.5 2,4.2 1-2.1 2,0.9 1,1.2 2-3 1,2.5 1-1.9 1,0.4 1-2.3 1-0.2 1-1.4 1-6 3-8.4 1-1.3 1,4.6 1-1.4 2,9.8 2,5.1 1,1 4-3.6 1,1.8 1-0.2 2,2.5 1-0.4 1,1.4 2-1.2 1,0.2 1,1.1 2-3.1 2-9 3-21.8 2,2.3 4,25.8 1,3.2 1,1.2 1-0.8 2,1.7 1-1.3 1,1.3 2-0.7 1,0.7 1-1.6 2,2.8 1-1.9 1,0.9 1,0.2 1,2 1-2.6 4-1.2 1,0.9 1-0.4 1,0.6 1-0.6 1-1.6 1,0 1,0.8 3-5.2 2-10.4 2-7.2 1-1.8 5,24.5 2,1.1 2-2.2 4-15.3 1-2.2 1-1.2 2,0 1,1.7 1-1.6 1,0 2,2 2,8.1 2,5.5 2-2.7 1-0.6 1,0.4 2,6.6 2,1.9 1-0.2 1,1.1 1,0 2-1.4 1-1.6 2-7.2 3-15.4 2-7 1-1.5 2,2.3 1,2.9 4,20.1 1-0.1 1,1.1 1-0.2 1-1.8 3-20.1 4-43.8 1,3.1 1-7 4,32.9 2,22.5 3,16.3 2,4.9 2,2 2-1.3 2-3.4 2-5.5 1-0.3 2-2.4 1,0.4 4,11.2 2,2.7 1-1.7 3,1.8 1-0.8 1,1.2 2-1.4 1,0.6 1,0.1 1-0.7 1,0.5 1-0.9 3-1.1 1,1.3 1-0.5 1,1 1-0.7 1,1.3 1-0.6 1,0.8 1-0.1 2-0.9 1,1.3 1-1.5 1,1.1 4-1.3 1-2.3 1-0.6 3,4.3 1,0 1-0.7 3,0.5 1-1.1 1,1.1 1-0.1 1-1 4,1.4 4-2.2 1-0.2 2,0.7 2,1.8 1-1.1 1,0.8 2-1.2 1,0.2 1-0.5 4-7 2-5.2 2-7.4 1,0.8 2-2.3 1,0.1 1,4 2,4 1,4.6 4,6.9 1-0.3 1,2.1 1,0.4 1-0.6 2-0.2 1,1 1-0.9 1,0.1 1-0.9 1,1.8 1-1 2,0.9 1-0.6 1-2 1-0.2 1-1.9 2-7.8 4-22.5 1-1.4 1,0 1,1.3 3,17.9 1,4.8 1,1.8 1-1.5 1-3.5 3-16 1,1.4 2,14.3 1,1.3 3-9.5 1-0.9 2,14.8 1,4.2 2,4.5 2,1.1 3-0.8 1-1.2 1,1.5 1-1.1 2,0.3 1,1.4 2-1.7 1-0.4 1,0.6 1-0.5 1,0.9 3-1.1 3,0.8 1-0.5 2,0.6 1-1.9 1,1.2 1,0.1 1-1.4 1,0.4 1,1.3 1-0.8 1,1.1 1-0.5 1,1.4 1-2.4 1,2.1 1-1.6 2,0.9 4-2 1,1 1-0.8 1,1.3 1-1.2 1,0.8 2,0.1 2-1.2 2-2.1 1-1.6 1-3.5 1,0.9 2-2.2 1,5.5 2,0.8 1,3.1 1-2.9 1,4.3 1-3.2 2,0.2 1-2.1 1-7.7 1-16.4 3-88.4 1-1.5 4,101.8 1,8.7 1,5.1 1,2.3 1-0.8 2,0.7 1-0.7 1,0.7 1-1.5 1,1.1 1-1.2 1,1.3 1-0.8 1,1.2 2,0 1-1.4 1,0 1-1.2 2,1.9 1,0.4 4-1.6 1,1.5 1,0.2 1-1.7 1,1 1,0.3 1-1.4 1,1.5 2-0.2 1,1.4 1-2.3 1,1.8 1-0.6 1,0.5 1-1.6 3,1.7 1-0.7 1,1.1 1-1.7 2,0.6 1-1.4 1,1.1 3,0.1 2-1.5 1,1.2 2-5.9 1-1.9 1-0.5 2,4.1 1,0.4 2,5 1-0.4 1,0.3 1,1.4 2-0.2 1-1.8 2,0.9 2-0.4 1,1.7 1-1.4 2,1.2 2-1.2 2,0.9 1-0.2 1-2 1,2.4 1,0.3 1-1.4 1-0.2 2,1.3 1-1.1 1,1.2 4-0.6 3,0.6 3,2.2 1,0.2 1-0.6 1,1.1 5,0.8 1,0.9 2-0.8 2,0.5 2-0.3 1,0.5 31,0.4" stroke="#1f77b4"/><path d="M291,574.3l1-1 2-5 1-1.3 3,6.7 2,1.2 42,0 1-0.8 1-2.6 2-13.3 1-2.6 1,3.6 2,12.8 1,2.4 1,0.6 3-0.1 1-0.5 1-2.3 1-6.3 2-43 2-139.7 1-21.8 1-63.3 1,40.2 1,10.2 1-68.3 1,21.1 1-31 1,20.8 1,8.7 1-2.8 1-33 2,103.2 1-58.3 1,31.9 2,26.7 1-19.9 1,30 1,9 1,45.2 1-25.9 2,21.1 1-0.8 1,18.7 1-21.8 1,30.4 1,0.2 1,1.8 1,17.3 1-14.8 2,11.2 1-2.1 1,11.7 1,4.1 1,13.1 1,2.8 1-1.1 2,6.2 1-6.3 1,22.1 1-8.4 1,7.1 1-9.9 1,7.1 1,1.2 1,5.3 1-4.8 1,3.4 1-1 1,11.3 1-10.9 1,2.6 1-0.7 2,0.4 1,1.2 1-1.5 1-0.5 1,5.3 1-0.6 1,1.5 1-1.3 1-0.3 1,0.6 1-1.2 1,5.5 1,2.8 1-1.1 1,9.1 1,3.9 1-1.9 1,2.1 1,4.7 1-0.9 2,4.6 1-0.6 2,4 1-1.4 1,1.7 1-0.5 2,0.7 1-0.3 1,3.5 2-1.9 1,0.4 1-0.2 1,1 1,0.1 1,2.1 1-1.9 1,2.1 1-2 2,2.1 1-0.3 1,0.9 2-0.4 1-1.6 1,2.9 1-0.9 1,1.9 1-2.7 1,3.2 1-0.8 1,0.1 1,0.9 2-1.3 3,2.3 2-1.6 1,0.9 2,0.1 1,0.6 1-0.4 1,1.5 2-1.7 1,1 2,0.8 2-0.8 1,0.9 2-0.7 3,0.4 1,0.8 1-0.9 1,0.1 1,0.9 3-0.8 1,0.6 3-5.1 3-15 1-10.7 2-11.1 1-3.7 1-1.6 1,2.1 6,39.4 1,3.4 1,1.5 1,1.2 3,1.9 2-0.7 2,0.9 1-0.9 1,0.4 1-0.5 3,0.7 4-0.3 1-0.5 2,0.8 5,0 2-0.6 2-2.2 3-6.3 1-0.3 1,1.4 1,0.4 1-0.8 1-2.1 1-6.3 1-12 3-54 2-13 3,54.4 2,26.7 1,7.9 2,5.8 3,1.7 3-0.2 2-2.1 1-5.6 1-10.3 3-52.2 1-0.1 3,52.5 1,5.1 1-3.8 3-37.9 1,1.3 3,32.2 1,5.4 1-2.1 1-6.8 1-13.6 3-65.1 1-0.9 4,86.8 2,15.8 1,1.5 2,0.5 3-0.2 2,0.6 3-0.6 1,0.4 2-0.4 2,0.5 2-0.6 1,0.8 4-0.6 2,0.6 3-2.2 1-1.8 1-0.1 2,1 1-0.6 1-1.4 2-6.1 1-0.9 1,1.4 3,8.4 1,1.5 3,1 4-0.4 3,0.5 1-0.5 1,0.4 2-0.5 2,0.1 1,0.6 2-0.7 2-3.6 2-5.6 1-1.9 1-0.5 1,0.1 4,10 2,1.7 4,0.8 2-0.6 4,0.6 1-0.5 2,0.2 2-0.4 1-0.4 2-6.7 3-25.8 1-1.9 1,3.2 2,14.5 1,3.2 4,6.9 2,4.9 3,2.4 6,0.7 1-0.5 1,0.4 1-0.5 2-0.1 2,0.5 3-0.4 1,0.4 4-2.3 2-0.5 1,1.5 3,1.2 10,0 1-0.3 1-0.5 1-1.9 3-11.8 1-2.2 1,2.4 2,9.3 1,2.4 1,0.9 1-1.4 2-5 1-1.2 1,1.1 3,7.4 1,0.8 2,0.6 3-0.5 2,0.4 1-0.3 10-0.2 6,0.3 8-1.1 6,1.3 4-0.5 1,0.5 12-0.4 1-0.5 2-5.7 1-9.2 3-59.3 1-13.3 1-4.6 1,8.8 3,59.7 1,12.1 1,7.3 1,2.9 2,2 4,0.1 10-1.2 2-2.2 2-4.2 1-0.8 1,1 2,4.3 2,2.6 3,0 2,0.6 1-0.5 1,0.4 1-0.4 1,0.4 3-0.5 2,0.2 2-0.5 3-1.8 2-0.1 3,1.9 2,0.4 3-0.2 1,0.6 1-0.9 2,0.8 2-0.8 2,0.7 2-0.6 1,0.7 2-0.2 1-0.6 1,0.5 4-0.3 2,0.5 2-0.5 10,0.4 3-1.2 2-3.3 1-0.6 3,3.6 2,1.1 1,0.2 1-0.5 3,0.4 2-0.6 2-2.8 1-4.6 4-36.4 1,1.1 1,6.1 1,12.9 2,16.6 1,4.8 1,1.8 3,1.1 2-0.5 1,0.5 1-0.5 3,0.3 1-0.4 1-2 1-7.7 2-26.6 1,2.8 2,27.3 1,4.6 2,1.6 1-0.4 1,0.7 2-0.4 1,0.7 1-0.4 4,0.2 2-0.5 3,0.5 1-1.1 1,0.4 2-1.4 3-5.4 1-0.8 3,5.3 2,2.2 3,0.6 3-0.6 2,0.6 2-0.4 3,0.3 1-0.5 1-1.4 1-3.8 1-11.5 3-122.5 1-19.4 1,1.1 1-10.4 1-31.1 1,2.1 3,173.9 1,16.7 1,4.2 2,1.9 1,0.3 2,0.4 1-0.7 1,0.2 1-1 1,0 3-4.2 2-1.1 1,0.3 3,5 3,1.2 2,0.3 3-0.3 1,0.6 3-0.5 1,0.7 2-1.1 3,0.8 1-0.8 2-0.2 2-2.2 5,1.3 1,1.2 1,0.2 3-0.8 1-1.5 3-2.7 1,0.6 3,4.3 3-0.4 1,0.7 1-0.4 1,0.7 2-0.1 2-1.5 2-6.1 2-3 1,1.7 1,0.5 3-8.8 1-0.8 1,1.1 3,11 3,5.3 1,0.5 4-1.4 1,0.4 1-0.2 1,0.9 3-4.3 2-14.5 2-22.6 1-19.1 2-20.9 1,0.8 2,16.9 3,44.6 1,6.6 1,4.7 2,3.8 2,1.2 1,1.7 2,0.3 1,0.7 1-0.5 1,0.8 1-1.8 2-1.3 5-4.6 3-5.3 2-1.4 1,0.8 1-0.3 4,11.5 2,2.5 1,0.1 3-1.9 2-0.1 1-1.2 2-5.5 1-0.3 1,1 2,5.5 2,2.6 2-0.1 1,0.6 1-0.6 1,0.5 1-0.4 2,0.3 2-1.2 1-1.8 1-3.8 1-7.3 4-50.6 1-6.4 1,0.5 4,51.1 1,8.2 1,4 1,0.7 1-3.6 3-23.4 1-5.9 1-0.3 2,10.7 2,17.5 2,8.3 1,0.2 1-1 1-2.4 2-6.7 2-9.2 1-1.6 1-4.6 1,0.7 1,3.1 3,15.1 2,6.6 2,0.6 2-2.7 3-10.9 3-18 1-1.6 2-6.1 1-1.1 1,2.3 2,11.8 4,18.4 2,2.3 1-2.3 2-12.3 5-64.2 1,4.5 1-3.7 1,3.1 1,17.6 4,45.2 2,13.5 2,5.4 1,0.6 2-0.9 2-3 2-4.6 1-0.3 1,0.6 4,7.1 2,1.8 1,0.2 3,0.4 6-0.3 1,0.4 2-0.4 4,0.3 3-0.4 3,0.5 1-0.4 1,0.4 10-0.1 2-0.7 1-0.9 3-5.9 1-0.6 1,1.1 3,6 1,0.4 4,0.7 3-0.5 7,0.3 3-0.4 3-3.2 4-6 3-2.3 1-1.5 1-3.8 2-4.2 2-2.6 1,1.2 1,2.4 3,9.8 3,6.9 2,2.7 3,0.8 13-0.3 1-0.6 1-0.1 2-2.6 4-11.4 1,0.2 1-2.1 1,0.4 2,5.2 2,3.2 1,0.1 3-4.5 3,7.4 1,0.8 1-0.1 2-1.8 1-0.2 2,2.5 2,1.1 1-0.1 3,1.3 2-0.3 1-1 3,1.7 4,1.1 1-0.8 1,0.7 2-0.9 1,0.8 1-0.5 5,0.5 3,0.1 2-0.4 3,0.3 4-0.3 1-0.6 2,1 2-0.6 2,0.5 1-0.7 3,0.8 1-0.6 2-0.2 1,0.4 2-0.3 1,0.3 2-0.5 2-3 3-8.2 1-0.6 2,3.9 2,5.8 1,1.1 2,0.8 1-0.7 1-1.8 1-4.6 1-11 4-117.7 1-0.2 1,9.9 3,95.4 1,17.2 1,8.7 1,2.8 2,2.8 1-0.6 1,0.7 1-1.2 4,0.7 6-0.4 2,0.7 1-0.7 1,0.4 3-0.9 1,0.5 2-0.6 1,0.6 7,0.3 1-0.5 1,0.3 1-0.6 2,0.7 1-0.5 1,0.3 4-0.2 1,0.5 2-0.5 5,0.4 2-1.3 3-3.7 3,4.2 1-0.3 1,1 1-0.4 1,0.7 1-0.3 1,0.3 1-0.6 2,0.4 1-0.4 1,0.6 2-0.6 1,0.7 1-0.6 2,0.5 2-0.6 1,0.5 2-0.5 4,0.6 5-0.7 2,0.6 2-0.4 1,0.9 4-0.2 3,1 10,0.9 35,0.1" stroke="#ff7f0e"/><path d="M291,573.4l3-6.3 2,2.5 2,4.4 2,0.3 42,0.1 1-1.8 1-6 3-29.3 2,24.8 1,8.3 1,3.4 2,1 3-0.3 1-0.8 1-3.1 1-8.9 1-16.6 4-240.8 1-22.2 1,15.8 1-29 1,31.9 2-63.4 2,85.7 1-53.5 1,46.2 1-15.8 1,11.3 2,46.9 1-11.1 2,46.6 1-14.1 1,19.5 2,14.4 3,37 1,4.4 1-11.2 1,17 1,3.1 1,13.8 1-3.2 1,11.6 1-14.2 1,20.4 1,0.1 1,0.9 1-2.9 1,18 1-8.3 1,4.4 1,12.4 1-6 2,10.4 1-0.6 1,1.4 1,7.9 1-8.8 1,8.6 1,2 1-5.4 1,1.9 1-7.1 1,6 1-0.9 1-3 1,1.4 2-4.3 1-3.9 1,6.3 1,0.9 1,2.1 1-3 1,3.3 1-1.2 1,6.4 1,0.1 1,6 1-0.1 2,10.2 1-0.2 2,4.3 2,1.2 1,2.2 3,2.5 1,1.6 3-1.1 1,1.7 1-1.8 1,2.4 1-0.8 1,0 2,2 1-1.5 1,2.4 1-1.5 1,1.4 3,0 1,1 1-1.1 1,0.5 1-0.3 1,1 1-0.4 2,2.5 1-1.1 1,0 1-0.9 2-0.2 1,1.3 1-0.3 1,0.8 1-0.5 1,0.9 2,0.1 2-0.9 1,1.4 1-0.6 1,0.4 1-0.4 1,1.3 2-1.3 2,1.3 2-0.7 2,1.4 1-1 1,0.4 1-0.4 1,1.2 1-0.9 2,0.8 1-0.5 1,1 1-0.8 3,0.7 2-1.2 1-1.3 3-12.8 5-42.4 1,0.6 3,7.5 2,20.7 2,14.8 2,9.5 2,3.4 1,0.7 1-0.9 1,1.2 1-0.4 2,0.9 2-0.2 1,0.6 1-2.4 1-0.3 2-2.1 5,5.4 2-1.3 1-1.8 2-6.1 1-5.3 1-0.9 1-2.6 5,16.6 1-0.1 1,1.1 1-1.1 2-5.2 2-11.5 3-29.1 2-14.2 1,4.8 1,1.8 3,35.9 2,14.7 2,3.6 2,1.9 3-0.9 1,1.2 2-2 1-3.2 2-12.5 1-3 1,2.1 2,12.2 1,1.3 1-1.9 1-9.3 3-45.7 1-0.9 4,54.7 1-2.7 1-15.2 3-130.6 1-20.5 1,20.2 3,133.3 1,15.7 1,6.1 1,1.7 1,0.1 1,1 4-1.1 2,0.1 1,0.8 1-0.9 1,0 1,0.6 1-1.1 1,1.3 3-0.5 1,0.2 1,0.8 1-0.8 1,0 1-1.3 3,1.8 1-0.7 1,0.5 3-0.8 2-3.3 4-21.1 2,6.9 2,11.7 3,6.6 1-1.1 1,0.1 2-3.3 4-16.5 4,13 1,0.9 1-0.3 3,3.6 1-0.2 2-6.2 2-10.5 1-2.1 4,18.6 1,2.2 2,2.3 1-0.5 2,0.8 2-0.9 2,0.6 1-1.1 1,1.2 1-0.3 1,0.6 2-0.4 1-0.9 2,1.2 1-1.5 2,0.3 1-1.2 1-0.3 6,2.6 1-0.6 1,0.6 1-0.7 1,0.6 1-0.4 1,0.4 1-0.6 2-0.1 3-3.7 1-0.6 1,1.1 1,0.3 1,1.6 5,1.6 2,0.1 1,0.7 2-0.9 4-0.8 3,1 3,0.4 1-0.6 2,0.9 1-0.6 1,0.7 1-1 2,0.7 3-0.9 1-2.2 1-10 3-63.6 1-0.7 3,65.1 1,8.8 1,2.1 2,2.1 1-0.5 2,0.2 3-0.4 2,0.6 2-0.9 1,0.9 1-0.7 6,0.6 2-1.1 1,1 1-0.7 1,1.1 2-0.3 1-0.9 1,0.8 1-0.7 1,1.1 2-0.8 1,0.3 1,0.9 1-0.9 2-0.5 2,0.5 2-2.8 2-1.9 1-0.3 2,0.5 1,1.8 1-0.2 1,2 2,1.1 4,0.4 1-0.6 1,0 1,0.9 2-0.8 2-0.1 1,0.4 2-0.8 2-2.1 2-5.4 2-3 1,0.5 1,1.7 3,6.9 2,1.2 2-1 1-1.3 1,0.1 3,2.7 2,0.8 1,0 1-1.4 1-0.1 1-0.9 1-0.3 1,0.6 1-1.3 1-0.5 1-6.5 3-38.8 1-0.4 1,5 2,28.9 1,8.4 1,1.6 1-1.4 1-2.9 1-0.3 2-2.8 1,0.5 1,1.7 4,9.1 2,0.2 2-0.4 2,1.6 2-0.3 1,0.5 6,0.2 1-0.7 2,0.6 2-0.8 1,0.7 2,0.3 1-0.7 2,0.7 2-0.8 1,0.4 1-0.5 3,0.6 7-0.2 2,0.6 1-0.8 2,0.4 1-0.6 1-1.6 1-5.2 2-21.9 1-3.9 2,10.5 1-3 2-23.1 1-1.2 4,43.8 1,4 1,1.9 2,0.1 2-2.1 2-5.6 1-1.3 1,3.1 2,1.9 4-13.3 1,0.9 3,13.4 1,2.1 2,0.9 1-0.3 5,0.8 1-0.4 1,0.5 1-0.8 3,0.6 4-0.8 3-4.6 1-2.9 1-0.1 3,6.1 2,1.3 2,0.5 1-0.6 1,0.1 2-2.1 1,1.2 1-0.1 1,0.8 2-0.2 2-5.9 2-13.7 1-4 1,0.8 1,3.5 2,13.1 1,4.2 1,1.8 2,0.8 1-0.9 4-1.6 2,0.6 1,1.3 3,0 1-1.9 1-4.5 1-9 2-40.6 2-69.2 1-17 1-7.9 1,8.1 4,113.4 2,22.2 1,4.7 1,1.9 1,0.3 3,0.4 2-0.6 1,0.3 1-1.6 1-0.2 2-1.7 4,2.6 2,0.8 4,0.2 2-1.4 3-5.6 1-0.3 2-2.3 2-3.7 2,9.3 1,2.5 2,1.6 1-0.6 1,0.5 2-0.1 1-0.7 2,0.9 3,0.2 2-0.1 2-1 1,0.8 1,0 4-0.4 3,0.4 1-0.6 1,0.7 1-0.4 1,0.5 4-0.8 3,0.1 2-3.9 3-14.1 2-15.4 1-2.3 2,2.9 4,25.2 2,5.8 1,1.3 4-3 1-1.4 2,2.5 1,0.3 1-0.9 2-12.3 2-22.1 1-17.1 2-16.6 1,4.3 1,8.5 3,42.3 1,7.9 2,7.1 2,1 1-0.6 2,0.9 3-0.7 3,0.3 3-0.6 1-1.5 1-1.6 1-3.7 3-20.9 1-4.6 1-1 1,3.4 3,21.7 1,3.8 2,4.1 3,0.8 3-0.3 1,0.6 5-1 3,0 1,0.5 1-1.1 1,0.4 1-0.5 1,1.2 2-0.4 3,0.2 2-3.8 4-12.6 1-1.2 1,0.6 2-3 2,6.4 1,0.3 3,10.3 2-2.7 1-3.5 2-19.5 3-38.1 1-0.2 1,5.5 4,48.9 2,8.8 2,3 2-5.5 3-15.3 2,4.2 3,13.3 2,3.2 2-0.3 2-2.1 2-5.5 5-27.4 1-3.4 1,0.2 1-2.5 2,6.2 1,6 1,3.1 1,9 1,4.1 2,2.6 1-0.5 2-9.3 5-50.7 1,0.9 1-1.5 1,4.6 5,50.7 1,6 2,6.8 1,1.8 2-0.6 2-3.4 2-9.3 3-8.1 1,1.6 4,15.2 3,5.9 1-0.8 1,0 3-6.8 1-0.9 3,6.1 2,0.7 2-1.9 2,0.5 1,2.1 1-0.5 2,1.4 3,0.1 1,1.2 1-0.7 1,1.2 1-0.7 1,0.1 2-0.7 1,0.6 1-0.4 3,0.1 1,1 2-1.4 2,0.8 2-0.5 1,0.3 1-0.5 1,0.6 2-0.2 1-1 1,1 1,0.3 1-0.7 1,0.5 1-0.3 1,1 1-1.3 2,1 1-1.2 3,1.2 3-0.1 1-0.9 3-0.3 2-3.3 3-9.7 3-20 5-25.8 2,1.6 3,25 1,2.1 5,25.7 1,0.1 2-9 1-2.3 1,2 2,11.4 1,2.4 1,0.8 5,0 2-1.6 2-2.4 4-13.4 2-5.1 1,0.9 1-0.4 1,1.2 1,3 3-8.3 1-0.6 1,3.3 3,17.9 2,2.7 3-3.1 2,0.5 1,2 1,0.2 1,2.3 1-0.7 1,1.6 1,0.4 1-0.9 3,0.5 1,0.7 1-0.9 1,0.9 1-0.7 2,1.2 1-1.3 1-0.3 1,0.8 1-0.5 3,1.3 1-1.3 1,0.6 1-0.1 1,0.4 2-0.8 3,0.9 1-0.6 4,0.4 1-0.9 1,0.8 1,0 1-0.8 2,1 1,0.1 2-1.2 2,0.8 1-0.5 2,0.5 1-0.5 2,0.2 1,1 2-1.4 1,0.4 1-1.1 1-0.2 1-1.5 4-11 1,0 3,9.9 2,3.3 1,0.7 1,0 1-1.1 1-3.7 1-9.7 2-48.3 1-52.4 1-20.1 1-0.8 3,97.8 2,33.9 1,3.2 2,1.5 1-1.1 1,1.1 1,0.2 1-0.9 1,0.9 2,0.2 3-0.7 1,0.8 2-1.4 1,1.1 3-0.6 3,0.8 1-0.8 1,0.1 1,1 3-0.2 3-1.2 2,0.6 1-0.4 2,1.1 2-1 1,0.9 1-0.8 2,0.6 3-0.4 2,0.3 1-0.6 2,0.1 1,1 1-0.1 2-4 1-7.6 3-45 1,3.8 3,45.6 2,7.1 1-1.1 1,1.4 2-0.9 4,0.8 1-0.7 1,0 2,0.7 4-0.8 2,0.3 1,0.7 1-1.4 1,1 6-0.6 1,0.4 1-0.7 1,1 2,0.1 1-0.5 1,0.7 2-0.1 1,0.9 1-0.7 3,1.1 1-0.2 1,0.5 4,0.2 38,0.3" stroke="#2ca02c"/><path d="M291,571.1l2-7.6 1-6.4 1-1 3,14.1 3,2.7 7-0.6 4,0.6 3-0.7 2,0.6 2-0.3 6,0.5 1-0.7 1,0.8 1-0.5 7,0.5 1-0.4 2,0.4 5-0.1 1-0.6 1-4.4 2-20.9 1-1 2,20.7 1,5.1 1,1.5 1,0.5 3-0.7 1-2.5 1-7.8 1-18 3-147 1-5.9 1,6.3 1-1.5 1,5.8 2-36.9 1,24.6 1-21.7 1,42.7 1,1.2 2,14.4 1-5.8 1,33 1-20.6 1,5.2 1,18 1,5.6 1-2.7 1,6.4 2,22.9 1-7.6 1,1.1 1,10.1 4,11.7 1,9.7 1-1.4 1-4.8 2,11.5 1-6.3 1,7.2 1-0.7 4,11.1 1-5.2 1,8.4 1,3.9 1-1.7 1,0 1,1.8 1-3.8 1,4.2 1-4.5 1,7.3 1-2.8 1-0.7 2,0.7 2-4.3 1-6.9 1,5.6 1-3 1,4.1 1-0.8 2,3.6 1-1 3,6.6 1-1.6 1,6.9 1-2.8 1,0.2 1,3.6 2-0.2 1,3.8 1-0.4 1,2.9 1-1.5 1,4.6 1-1.7 1,2.4 1,0.7 1-2.8 1,2.5 4-0.4 2,2.1 1,0.3 2-1.5 1,2 1-1.1 1,2.2 1-1.2 1,0.4 1,1.2 1-1.5 1-0.2 1,1.3 1-2.2 1,2 1-1.2 2,1.9 1-0.9 1,2.7 3-1.5 1,1.3 1-0.4 1,0.8 1-1.1 2,1.7 1-1.1 1,0 1,1.1 1,0.3 1-1.9 1,0.5 1,1.4 1-0.2 1,1.4 1-1.9 1,0.9 1-0.9 1,0.9 2,0 1,1.4 1-2.8 1,2.8 1-1.2 1,1.1 2-1.7 1,2.5 1-1.4 2-0.3 2,0.6 1,1.2 1-0.4 3-3.3 3-8.3 1-5.2 1-0.5 1-7.3 2-2 1,0.6 1,3.3 4,17.1 1,2.5 1,0.1 1,3.7 3-0.8 1,1.2 1,0.2 2-2.3 2,2.3 1-0.7 1,0.7 1-1.3 1,0.1 1-1.2 1-1.8 1-4.1 1-0.4 3,6.5 2,2 1-1.5 1,1.7 1,0.4 1-1 1,0.8 1-0.5 2,1 1-1.8 1,1.3 1-0.7 2,0.6 2-4.4 1-4.9 2-22.8 3-49.8 1,0.1 1-7.8 3,50.1 2,23.5 2,13.7 2,2.5 3-1.6 1-2.5 2-2.8 2-0.4 2-7.3 2-13.7 1-3.1 3,24.2 1,4.1 1-0.4 3-15.5 1-0.8 3,16.5 1,1.3 1,0.1 1-1.8 1-5.3 3-20.2 2,10.2 2,14.8 2,5 2,0.1 1,0.7 2-0.9 1,1 1-0.5 1,0.8 2-1.3 3,0.8 1-1 1,1 1-0.9 2,0.8 1-0.8 1,1 1-0.9 2,0.3 1-0.6 3,1.2 2-0.4 2,0.4 1,0.8 2-4.1 1-4.2 3-24 1,1 3,21.1 1,3.6 1,0.1 1-1 2-5.7 2-2.9 2,3.5 2,8.3 1,0.1 1,2.4 1,0.1 1-1.5 1,0.2 9-27.9 2,7.2 2,13 2,7.7 2,2 1,0.3 1-0.8 1,1.7 1-2 1,1.2 2,0.8 2-1.3 1,0.6 5-0.3 2-1.5 4-22.4 1,3.3 3,17.8 1,2.5 1,0.7 1-1.5 1,0.2 1,1 1-0.3 3,1.1 1-0.9 1,0.5 2-0.6 1,0.7 1-0.9 1,0.5 2-0.4 1-1.5 3-9.3 1,1.2 2,7 2,2.6 1-0.2 1,1.2 3-1.2 3,1.5 1-1.5 2,0.7 2-2.8 2-4.5 1,0 2,3.7 2,2.4 3,1.1 1-1.6 1-0.1 2-2.5 2,0.7 1,2.3 3,1.2 1-0.7 4,1.2 2-0.9 3-4.4 1-0.4 1,0.7 1-0.1 2,1.8 1-0.7 1,0.3 2,1.7 2-0.5 1,2.2 1-0.3 1,0.3 1-0.7 1,0 1,0.8 1-0.6 1,1 1-0.7 1,0.6 1-0.5 1,0.3 1-0.6 1,0.8 1-0.6 4,0.8 2-1.1 2,0.5 1-0.7 1,0.6 2-0.5 3,0.5 1-0.9 2,0.9 2-0.9 2,0.9 4-0.6 2,0.4 1-0.9 1,0.8 2-4.1 3-11 1-1.7 1-0.1 1,2.6 1,6.6 1,3 3,5.2 2-0.9 1,1.1 1-1.1 1,1.1 1-1.1 3,1.2 4-1.1 1-1.1 3-6.3 3-30.4 1-4 1,4.2 2,24.4 1,6.6 2,6.9 1-0.8 1,1.5 1-1.3 2,0.8 2-0.4 1,0.7 1,0 2-1.2 2-0.3 1,0.9 3-3.3 1-0.1 1,0.1 1,1.6 1,0.5 1-0.4 1,1 2-0.4 5,0.6 5-2 1,1.4 1-1.3 1,1.6 2-1.1 2,2.1 1-1.9 1,1.3 2,0 2-0.7 1,0.6 1-1.3 1,1.6 1-0.7 1,0.5 1-0.9 1,0.9 1,0 1-1 1,1.4 1,0 2-2.5 1-3.8 3-35.9 1-5.5 1,5.6 2,29.3 2,11.1 1,0.1 1,1.3 3-2.3 1,2.7 2-2.2 1,1.9 1-1.6 2-1.4 2-16 1-12.9 2-11.5 3,32.2 1,6.4 1,3.1 2,0.8 1-1.6 1,1.4 2,0.4 1,0 1-0.9 2,1 3-0.7 1,0.5 1-0.4 1,0.4 1-1.4 2,1.1 2-0.6 1,1 3-4 1-2.1 3,0.7 1-0.4 1,3.1 1,0.9 1-0.1 1,1 1-1.4 3-11.4 1-1.2 2,7.3 2,3.2 1-0.7 1,1.5 2,0.6 1,1.2 2-0.1 2,1.4 1-1.2 1,1.3 1-1.7 1,0.9 1,0 1,1.5 1-1.9 1-0.3 1,1.9 3-3.2 2-16.4 2-40.7 2-59 1,1.4 1,2.9 4,98.2 1,8.7 1,4 1,2.5 1,0.7 1-0.3 1-1 2,1 1-2.7 1,1.6 2-5.2 2-0.7 2,1.8 3,1.4 1-2.3 1,1.6 1-1.2 1,0.2 4,5.6 2-0.8 2,1.3 1-1.5 1,1.4 1-0.8 2,1.1 1-2.6 3,1.1 3-6.8 1-5.4 1,1.6 1-2.8 1,4.6 2,4.8 2,3.6 2,1.4 3,0.1 2-0.6 1,1.5 2-3.8 1-0.3 2-2.1 2-1 1,2.7 1,0 1,2.6 1-1 1,2.1 1-1.8 1,0 1,1.4 1-3.2 1-1 2-8.7 4-26.9 1-0.3 1,2.4 2,17.3 2,10.7 3,9.6 2-0.5 1,0.5 2-2.5 2,3.3 1-2.6 1,1.1 3-6 3-10 1-1.8 1,1.2 4,11.9 3,5.3 1-0.3 1-1.1 1,0.4 2-4.4 1-5.1 1-2.7 1-9.1 1-3.3 1,1 2,5.4 2,11.5 2,1.6 2-10.7 3-21.6 1-3 1,2.2 1,4.6 3,22.9 2,7.9 2,3.8 1,0.4 1-1 1,1.4 1-1.6 2-0.1 1-0.8 2,1.6 1-1.3 1,1.5 1-1.1 1,1.3 1-1.6 2,0.8 1,1.2 1-1.5 1,0.5 1-0.5 1,1.2 3-2.6 1,2 2-3.5 2-5.6 1-7.8 3-4.8 1,2 1,6 1,1.4 2,7.4 1,0 1,1.4 1-1.1 1-2.5 3-14.2 1-1.4 1-5.5 1-0.9 4,19 1,1.6 1,4.1 1-1 4-25.2 1,1.2 3,8.7 2,11.2 2,7.5 1-0.6 2,1.9 1-1.6 1-0.6 1-2.9 2-10.6 5-50.3 1-7 1-2.2 1,1.5 2,14.4 3,33.9 2,12.2 1-2.7 2-13.5 2-32.2 4-85.5 1-2 2,13.9 2,49.9 2,36.7 1,14.9 2,17.2 2,8.7 1,2 1,0.5 1-1.9 1-4.8 1-1.5 2-13.1 1,0.4 1-2.8 2,7.4 3,16.8 3,5.6 1,0.8 2-0.5 1-1.2 1,0.4 1-1.3 2-0.5 1-1.6 5,4.9 1-1.9 2,2.3 2-1.4 2,0.4 1-1.3 1,0.9 1-1 2,2.2 1-1.3 1,1.4 1-1.3 2,1.1 2,0 2-0.8 1,0.7 1-1.6 2,2 1-0.1 1-0.8 1,0.8 2-0.9 1,0.4 1-0.4 1,1 3,0.7 1-0.8 3-0.1 1-0.8 1,1.6 1-0.8 2,0.5 1-1.1 1,0.6 1-1 1,1.6 2-2.2 1,1.8 2-1.2 1-1.2 1,0.1 6-13.2 1-1.7 1-0.6 2,3 1-0.5 2,6.1 3,7.1 1-0.2 2,1.5 1-0.5 1,1.5 1-0.7 1,1.3 1-0.7 3,0.7 1-0.8 4,1 1-0.7 1,0.7 1-1.4 1,1.4 1-1.1 2-0.9 1,0.6 2-0.5 1-2 1,0.4 2-0.4 2-2.1 2-7.1 2-18.9 1-3.6 1-0.5 4,30.3 2,1.7 1-1.3 3,2.4 1,1.6 1-1 1,2.3 1,0.3 1-0.8 3-0.4 2,0.9 1-0.3 2,0.6 1-1.3 1-0.7 1,0.8 2-1.9 1,1.5 1-0.1 1,0.9 1,0.1 2,1.3 2-6.3 1,3.4 2-1.8 3,0 1,1.8 1-1.6 1,0.7 2-1.5 1,2.2 1,0 2-2.6 3,1.4 2-0.7 1,0.8 1-0.9 1,0.8 1-0.3 1,1.1 1-1 1,0.1 1-1.3 1,2.6 1-1.8 1,0.6 2-2.6 1-2.8 1-1.4 1-4.6 2-5.3 1-1.3 2,11.3 1,2.5 2,1.8 1,2.4 1-0.5 1-2.1 1,3.4 1-1.5 2-9.7 3-23.6 1-2.2 3,26.4 2,8.3 1,1.2 2-1.4 1,1.6 1-0.9 1,0.3 2-0.7 1,2.8 1-1.1 1,0.6 1-3 2,2.7 1-0.5 1,1.1 1-1.2 1-0.4 2,2.3 1-3.7 2,2.5 2-2.5 1,2.7 1-0.1 1-1.9 1,0.1 3,1.9 1-0.4 1-1.9 1,1.3 2-0.1 1,0.9 1-2.6 1,1.2 2-0.5 1,0.7 1,0 1,1.6 1-0.3 1-1.6 1,4.2 1-0.8 1,0.5 1-0.9 3-0.3 1-2.1 2-9 1-0.8 1,0.1 1,6 2,6.4 1,0.5 2-0.3 1,0.9 1-0.6 1,0.3 1-0.8 2,0.6 2-0.8 1,0.7 1-0.7 1,1.1 1-0.4 1,0.8 1-0.9 1,0.4 2-0.4 2,0.9 1-0.8 1-0.2 2,0.7 1-1 1,0.7 1-0.7 1,1 2-1.4 1,1.4 3-0.7 3,1.8 1-0.2 1,0.8 1-0.3 1,0.8 1-0.7 1,0.2 2,0.9 4,0.7 9-0.3 13,0.5 4-0.4 11,0.4" stroke="#d62728"/><path d="M291,574.9l1-0.7 3-7.6 1,1.1 2,6.1 1,1.1 1,0.3 40,0.1 3-0.1 1-0.6 1-3.5 2-32.7 1-7.6 1,8.2 1,21.6 1,11 1,3.2 1,0.4 5-0.2 1-1.3 1-5.5 1-16.7 1-46 2-159.8 2-96.9 1,28.1 1-26.2 1,4 1,24.3 1-11 1,0.8 1-7.9 2,33.5 1-10.4 1,15.4 1,48.4 1-7.4 2,35.2 1,9.3 1-5.6 1,19.1 2,19.4 1-12.6 3,49.1 1,3 1-7.7 1,11.1 1,2.8 1-3.5 1,11 1,5.8 2-7.2 1,18.7 1-2.2 1,8.3 1-7 1,25.9 1-1.5 1,2.1 1-12.5 1,5.2 1,12.4 1-0.1 1-1.7 1,3.3 1,0 1,8.2 1,0.6 1-6.3 1-1 1,7.1 2-4.8 1,2.8 1-9.3 1,1.5 1-0.1 1,1.7 1-0.4 1-2.6 2,5.2 1,0.9 1,7.6 1-1.4 2,9.9 3,7 1,4.7 1,1.6 1-1.8 1,1.3 1,3.6 1-1.4 1,3.3 1-1.1 3,2.4 1-0.4 3,3.6 1-2 1,0 1,1.9 1-0.5 1,1.2 1-1 1,2.8 1-2.5 1,1.9 1,0.2 2-1 1,1.6 2-1 1,1.3 2-0.9 2,1.9 2-0.8 1,0.9 3-0.5 1,1.1 1,0.1 1-0.6 2,1.1 2,0.4 1-0.6 1,1.1 2-0.6 1,1.5 2-0.7 4,0.3 1,0.6 1-0.9 1,0.7 3-0.1 1,0.5 2-0.6 2,1 3-1.4 2-2.5 2-8 2-14 2-19.9 1-5.8 1-2.7 2,1.7 1,4.3 3,27.7 2,12.4 1,3.7 2,4.3 2,1.2 4-0.3 2-2.6 4-12 1-0.5 1,1.2 1,0 2-3.6 1,0.1 3,11.8 1,3 1,1.3 1,0.4 1-0.6 3-5.7 1,0.3 1,1.1 2,4.7 2,2.4 3-0.8 1-1.4 1-3.9 1-7.8 2-25.5 2-39.3 1-3.1 1,4.2 3,52.9 2,15.7 1,2.8 1,1.2 4,4 3,1.5 1-1 1-3.9 3-35 1-0.4 3,34.5 1,3.6 1-1.3 1-6.1 2-27.4 1-7.8 1,3.5 2,27.5 1,8 1,2.8 1-2 2-18.9 2-29.6 1-4.2 1,3.2 2,30.1 2,19 1,4.1 1,1.5 3,0.7 29,0 4-2.3 1-0.1 1,0.1 4,2.5 2-1.2 2-5.3 1-0.4 3,6.2 2,0.9 2-0.5 4-5.6 3,0.7 1-2.8 1-5.4 2-14.8 1-2 1,2.6 3,21.5 1,3.6 1,1.6 2,1 15,0.1 2-0.9 3-3.6 1-0.4 3,3.7 1,0.5 6-0.4 2,0.9 4,0.4 14-0.1 2-0.7 3-2.4 4,2.9 2,0.5 7-0.2 2-0.6 2-2.1 2-3.5 2-5.9 1-0.5 1,0.7 3,9.3 1,1.6 1,0.7 2,0.2 2-1.2 2-3.7 1-0.8 1,0.7 1-0.1 1-1.3 2-6.2 1,0.8 2,8 2,3.7 5,0.4 27-0.2 1-0.4 1-1.5 1-3.4 2-13.5 1-3.1 1,3.1 2,13.4 1,3.6 2,1.9 4-0.1 2-0.9 2-3.2 3-8.5 1-0.6 2,3 2,6.4 2,3 3,0.8 12,0.1 2-2.2 1-3.1 3-19.6 1,0.3 1,3.3 2,14.8 1,3.7 1,2 1,0.4 13,0.3 2-0.8 2-4.6 2-8.6 1-1 1,1.7 3,10.8 1,1.7 1,0.5 2,0.4 24-0.2 3-1.2 4,1.1 1-0.7 1-2.5 1-5.1 3-31.6 1-4.6 3,32.4 1,5.6 1,2.6 3,0.4 3,2.8 2,0.8 1-0.3 1-0.4 1-1.7 1-3.8 3-21.5 1-0.7 1,3.3 3,21.3 1,2.5 1,1 4-0.1 2-1 4-3.5 2,1.3 2,2.2 3,1 2-1.3 1-1.4 2-5.9 1-1.9 1-0.6 2,3.9 2,5.3 2,1.9 6,0.3 2-0.4 2-1.5 3-4 1-0.5 3,4 3,2.1 2,0.4 1-0.4 1,0.4 6-0.3 2-1 1-1.6 2-11.5 4-60.5 1-4.6 1,3.7 1,9.3 1,22.8 3,33.7 1,3.6 3,4.2 1,0.2 1-1.2 2-5.9 3,6.8 1,0.3 2-1 1,0.1 4,1.9 1-0.2 1-0.7 2-5.2 1-0.2 2,4.4 1,1.7 1,0.7 3-2.2 1,0.2 2,1.6 2,0 2-1.8 2-3 4-13.8 1-0.3 2,6.1 2,9.8 2,3.2 1,0.6 3,0.1 18-0.4 2-1.5 2-4.7 4-14.6 2,4 3,12.1 2,3.7 1,0.8 2,0.3 5-0.2 2-2.2 2-7.2 6-63 2,10.5 1,8.5 1,17.3 3,27 1,4.7 1,2.6 1,1.2 3,0.9 8,0 2-1.2 1-1.8 1-2.8 1-5.6 4-30.8 1-0.8 2,13.1 2,17.8 2,9 1,1.9 2,1.2 23,0.2 2-0.4 2-2.3 2-4.5 3-10.2 1-0.8 3,9.4 2,4.4 1-0.5 1-2 2-12.4 3-40.3 2-19 1,0.8 5,60.5 2,12.1 1,2.5 1,0.8 1,0 4-4.7 2,1.3 4,4.6 2,0.2 2-1.1 1-1.2 3-6.9 3-13.1 2-5.9 1-0.5 1,0.7 3,8.5 1,4.4 2,5.2 1,0.6 2-5.8 2-15.1 5-50.8 1-1.1 1-5 2,14.9 3,37.2 2,17.6 1,6.3 2,7.6 1,1.7 2,1.3 2-0.7 4-3 1,0 3,2.6 2,0.9 3-1.5 2-0.1 1-7.8 1,2.9 1,1.2 1-2.4 1-0.4 1,2.8 1-2.9 1-0.2 1-1.6 1-3.1 1-0.1 1,2.3 2,2.2 2,1.6 1-0.4 1,2.6 1-1.1 1,2.4 1-0.8 1-2.8 1,1.4 1-3.2 2,3.9 1,0.3 1,2.1 1-6.3 1,1.6 1-5.4 3,8.7 1,0.6 1-2 1-0.6 1,2.3 1-3.7 1,0.1 1,2.9 1-1.1 1,1.6 1-3.1 1,2.2 2,2.3 1-1.8 1,1.5 1-4.9 1,0.7 1,2.8 1,0.1 1-1.8 1-0.6 1,2.4 1-4.3 1,1.1 1-1.9 1,8.1 2-5.9 1,0.3 2,2 1-3.1 1,1.2 1-3.6 2-2.9 1,2.2 2-11.8 2-3 1,0.3 1,3.4 1-1.4 4,11.9 2,3.3 1-0.1 2,4.6 2-2.9 1,0.1 1-1.6 1,0.5 1-0.3 1,2.3 1-2.3 1,3 1,0 1-1.7 1-0.1 1,1.6 2-5.9 1,0.4 1-3.1 3-2.5 1,2.2 1-4.4 1,5 1-4.1 1,1.8 1-2.6 1,2.5 1-0.7 1,2.3 5-29.9 3,30 1,1.2 1-1 3-15.9 1-1.4 2,9 1,8.9 1,2.9 2,5.1 1-3 1,2 1-0.1 1,3.8 1-4.5 1,1 1,3.2 1-3.5 1-0.6 1,2.3 2,1 1-2.3 2,0.4 1-4.6 1,4.1 1-0.4 1,3.1 1-3.1 1-1.1 1,2.8 1-5.4 1,4.7 1-1.4 2,1.5 1,4.2 1-6.7 1,5.6 1-6.1 1,4.1 1-0.7 1-5.3 1,6 1-1.5 1,1.5 3-4.3 1,6.9 1-4.1 1-1.8 1,0.6 1,2 2-3.4 1,1.9 1,7.9 4-0.5 2-1.2 3-3.9 1-0.2 2,0.6 4,4.3 3,0.5 1-0.7 1-2 1-4.2 3-28.3 1-13.6 1-4.5 4,40.1 2,10.7 2,2.5 25,0.3 16-0.5 12,0.2 5-0.7 3,0.6 9-0.1 1,0.4 1-0.4 6,0.5 1-0.5 7,0.4 4-0.3 20,1 37,0" stroke="#9467bd"/><path d="M291,573.1l2-4.9 1-1.3 1,0.8 2,4.9 1,1.2 1,0.4 6-0.3 12,0.6 11-0.4 15,0.3 1-1.3 1-3.7 2-16.8 1,0.4 2,17 1,3.6 1,0.9 2,0.1 1-0.1 1-0.9 1-5 1-12.1 1-30.3 3-207.5 1-12.4 1,7.1 1-34.6 1,36.1 1-55.5 1-2.8 1-0.1 1,31.1 1,9.7 1,4.2 1-21.8 1,45.8 1,6.6 1-16.8 1,46.2 1,0.7 1-4.1 1,17 1-4.4 1,9.3 1,19.4 1-6.3 2,17.4 1,28.5 1,14.9 1-5.9 1,6.4 1,2 1,5.1 2-9 1,19 1,7.1 1-0.8 3,10.5 1,12.2 1-3.6 1,5.9 1-3.7 1,3.5 1,8.3 1,2.2 1-5.8 1,8.5 1-5.6 1,9.5 1-1.6 1,8.4 2-9.9 1,11.5 1-8.3 1,6 1-0.8 2-9.3 4,10.5 1-4.5 2,9.4 1-1 1,4.2 1,0.1 2,6.2 2,1.7 1,4 4,4.3 1,0.4 1,2.4 1,0.2 1-2 1,1.7 1,5 1-2.5 2,0.1 1,1.1 1,2.3 1-1.3 1,0.3 1-0.7 2,3.4 1-1.2 2,0.3 1,2.4 2-2 1,1.3 1,0 2,1.3 2-0.6 2,2.4 1-2.1 1,2.1 1-0.9 1,0.7 1-0.8 1,0.8 2-0.2 3,1.6 2-1.3 1,1.9 2,0.2 2-0.6 3,0.7 1,0.9 1-0.3 2,0.7 2-1.2 2,1.4 1-0.9 1,1 3-0.5 1,0.8 1-0.7 2-0.1 3-1.6 2-6.1 1-6 1-3.2 2-13.6 3-14.6 1,3.5 1,1.1 1,8.3 5,25.9 3,7 2,1.2 1,0 1,0.9 2,0 1-1.1 1,0.5 1-1.2 2-0.3 2,1 1-0.4 2,1.6 2-0.2 1,0.3 1-0.4 1,1 2-0.9 1,0.7 2-0.4 2,0.5 7-0.4 1-1.2 1-2.6 1-3.7 1-7.3 3-43.4 2-21.4 2,10.7 4,57.3 1,6.7 1,2.9 1,1.7 2,1.2 7-0.4 2-3.5 2-6.7 1,1.1 2,5.7 1,1.7 1-2.5 4-37.6 1,4.2 3,28.8 1,2.2 1-1.8 2-8.4 2-14.5 1-1.1 1,4.6 2,19.1 1,4.9 1,3.5 2,1.3 1-0.5 3,0.8 5-0.6 4,0.6 2-0.5 7,0.7 3-0.4 2-1.3 2-6.4 2-12.1 1-3.9 1-1.1 2,6.1 2-1.7 1-3.2 1,2.3 2,11.1 2,8.2 1,1.2 2,0.9 4-2.6 3-6.4 1-0.7 1,0 3,6.7 1,1.4 1,0.3 1-1.6 1-3.2 2-10.1 2-7.2 1,2.2 3,14.9 2,5.7 1,0.6 2,0.5 5-0.2 1,0.4 3-0.3 1,0.5 4-0.5 2-0.7 4-3 1,1.8 2,1.2 1-0.4 1,1.1 1-0.2 1,0.5 5-0.4 6,0.1 1,0.4 2-0.5 4,0.2 1-0.4 3,0.5 1-0.3 1-1.2 1-2.2 2-11.9 1-9.2 1-1.3 1,1.8 3,19.9 1,2.6 1,1.2 5,0.6 4-1.2 2-2.3 2-0.5 2,0.6 4,2.9 2,0.6 4-0.5 1,0.4 2-0.8 2-4.6 3-14.3 4,17.6 2,2.1 5,0.2 1-0.4 3,0.5 2-0.4 2,0.3 2-0.3 1,0.4 1-0.4 2,0.4 1-0.4 1,0.7 3-0.9 2,0.6 4-0.1 1-0.5 2,0.7 2-0.7 3,0.6 2-0.8 3,0.8 3-0.7 1,0.4 2-1.4 1-3.5 3-32.5 1-2.7 1-6 1,2.4 4,35.8 2,6 1,0.3 1-0.5 2,0.4 3-0.7 5,2 2-0.4 1-1.9 1-4.5 3-26.2 1-3.4 1,2.6 3,20.3 3,10.2 1,2.2 1,0.7 3,0.9 2-0.7 1,0.5 2-0.3 2,0.4 2-0.5 3,0.5 1-0.7 1,0.3 1-0.4 1,0.5 2-0.5 1,0.7 3-0.6 1,0.3 4-1.4 3,1 2,0.1 1,0.6 2-0.7 1,0.8 4-0.6 1,0.7 2,0 2-0.8 1,0.6 2,0.1 1-0.5 6,0.5 1-0.7 1,0.3 1-0.6 2-1.8 1,0 3,1.4 1,1.3 2-0.6 1,0.7 1-0.4 2,0.5 2-0.8 2,0.5 1-1.1 2-6.8 4-48.1 2,17.1 2,26.8 1,7.2 1,3.4 1,1.2 1-0.3 1,0.4 4,0.1 2-0.7 1,0.7 1-0.6 2,0.3 1-0.3 2-2.6 3-7.7 2-1.4 2,2.8 1,0.3 1,1.6 1,0 3,6.1 2,1.1 6,0 6-1.3 4,0.8 1-0.2 2,0.8 2-0.9 1,0.9 2-1.2 1,0.5 2-0.9 3-5.2 1-0.5 4,3.5 1-0.9 2-3.8 2-2 1,0.2 4,8.3 2,0.7 1-0.8 1,0.5 1-0.6 3-0.1 1-2.4 1-6.8 1-13.8 2-35.3 1,1.6 3,46.2 1,7.5 1,2.9 2,2.3 2-0.5 2,0.5 1-0.4 3,0.5 1-1.1 1,1.1 2-0.9 3,0.8 1-0.6 1-0.1 1,0.7 1-0.5 2-2.2 1-0.1 1-1.4 1,0.1 3-7.2 2,1.2 3,7.8 3,2.3 3-1.2 1,0.5 1-0.5 1,0.9 2-0.3 2,0.4 2-0.7 1,0.5 2,0.1 2-0.8 3-5.6 4-21.1 2-2.1 1,2 2,13 3,11.6 2,2.3 1,0.6 2-0.7 1,0.8 2-0.4 1,0.2 2-0.7 1-1 2-5.8 5-39 1-0.9 1,1 1,10.9 4,28.4 2,5.4 1,0.4 1,1.4 6,0.1 1-0.7 3,1 1-1.5 2-0.8 2-5.8 3-12.9 1-1.5 1,0.3 1,1.6 1,2.7 3,13.4 2,2.5 2,1 1-0.2 2,0.5 1-0.4 1,0.7 3,0.1 1,0.4 3-0.7 1,0.5 1-0.5 2,0 1-0.5 3,1 1-0.7 2-0.2 1-1.7 2-6.8 1-7.2 4-45.3 1,0.1 1,8.2 3,38.2 2,11 2,0 2-5.6 3-16 1-0.7 1,2.6 1,1.2 3,15.1 2,5.4 1,0.3 1,1.2 1-0.9 2-3.4 2-4.8 1-1.4 1-0.2 1,1.3 1,3.1 3,5.6 1-0.4 1-1.2 2-6.9 2-15 2-24.7 3-57.9 1-1.3 2-16.5 2,17 4,62.6 3,27.9 2,4.8 2-8.1 3-19.1 1-2 1-4.1 2,5.2 1,1.4 3,21.8 2,9.4 3,7.4 2-0.5 1-1 5-16 1-1.2 1,0 2,4.2 2,8.2 2,5.8 1,1.7 1-0.6 2,0.5 1-0.4 3,0.5 2-0.7 2,0.9 2-0.7 2,0.9 1-0.6 7,0.3 1-0.5 1,0.5 2-0.3 1,0.4 4,0.2 1-0.6 2,0.7 1-0.6 2,0.3 2-2.1 2-0.4 3,2.2 4,0 1,0.6 2-2.2 3-1.1 1,1.1 2-0.3 2-1.1 1-1.5 1-0.4 1,0 3,3.8 1,0.3 1-0.8 3-5.6 4-15.2 1-1.2 2-5.1 1,2.5 1-0.2 5,18.8 3,5.7 2,1.1 3-0.2 2,0.9 2-0.2 4,1 1-1 1,1 1,0.1 1-0.8 1,0.6 2-0.3 4-4.4 2-4 1-0.4 1-1.7 1,1.6 2,1.5 1-1 1-2.1 2-9 1-2.2 1,1.9 2,9.6 1,0.2 3-19.6 1,0.5 3,21.8 2,6.3 1,0.3 2-2 1,0.1 3,2.6 2,0.5 12,0 2,0.4 3-0.4 3,0.5 3-0.6 1,0.4 1-0.6 2,0.4 3-0.2 1,0.6 9-0.8 7,0.5 1-0.8 3-1 1,0.3 1-0.8 1,0.7 1-0.3 2,1.3 2,0.3 2-0.7 1-1.8 1-5.4 1-10.6 3-91.7 1-22.2 1-9.1 4,120.6 1,12.2 1,5.7 1,2.4 3,1 1-0.6 1,0.5 7-0.2 2,0.5 1-0.7 5,0.2 1-0.4 1,0.6 1-0.4 4,0.7 4-0.8 1,0.6 1-0.4 15-0.3 2,0.5 1-0.4 2-3.2 1-4.3 2-14.4 1-1.6 1,1.2 3,19.3 1,1.9 2,1.2 3,0 2,0.6 3-0.6 11,0.5 7-0.2 1-0.4 2,0.5 1-0.3 1,0.6 3-0.1 12,1.3 38,0" stroke="#8c564b"/><path d="M291,573.1l1-1.3 2-7.8 2,3.2 2,5.6 2,0.9 6-0.2 4,0.5 1-0.4 3-0.1 1,0.4 1-0.4 1,0.5 1-0.5 3,0.6 1-0.7 1,0.6 8-0.3 1,0.5 2-0.3 9,0.5 2-1.6 3-15.7 1,3.6 1,7.7 1,4.2 1,1.8 6,0 2-0.5 1-2.5 1-6.7 1-18.8 3-110.6 1,11.9 1-39.8 1-1.5 1,8 1,26.8 1-22.4 1,2.7 1,18.2 1-9.7 1,27 1-13.9 1,1.8 1,9.9 2,12.1 1-2.9 1,3.5 2,15.9 1,19.3 2-7.2 2,2.1 2,16.3 1-3.7 1,0.8 1,1.6 2,7.9 1,12.1 1-6.8 1,12.3 2-17.2 1,8.3 1,3.8 1-1 1,8.3 1-5 3,10 1-5.3 1,2.1 2,2.1 1-3.3 1,4 1,0.6 2-5.5 2,0.9 1-0.1 1-3.5 1,3.3 1-0.9 1,0.9 2-1.4 1,0.4 2,7.3 1-0.7 1,2.9 1,0.4 1,3.4 1,1 1,3.4 1-0.4 1,2.3 1,0.8 1-0.8 1,2.5 1-0.8 1,2.8 2-1 2,1.5 1-1.2 1,2 1-2.1 1,0.8 1,2.5 1-1.3 1,0.2 1,1.2 1,0.1 1-0.7 2,1.5 1-1.2 1,0.9 1-0.8 1,1.4 1,0.5 2-0.7 1,1.6 2-2 1,1.9 1-0.3 1,1.1 1-1.7 2,0.4 1,0.9 1-0.1 1-1.4 2,1.4 1-0.1 1,0.7 2-0.3 2,0.4 2-0.9 2,1.5 2-0.5 1,0.8 2-0.9 4,1.2 1-0.9 2,1.6 3-1.4 2,0.9 1-1.1 1,1 1-1.1 1-0.1 1-1 2-6.5 2-8.7 2-12.6 1-3 1,0 1-1.4 1,1.2 5,25.6 2,5 3,3.1 1,0.6 3-0.2 1,0.6 1-0.9 1,1 1-0.1 1-0.7 1,0.9 3-0.6 2,0.3 2-0.6 4-5.8 2,0.7 2,3.6 2,1.7 3,0.7 1-0.4 1,0.3 2-1 1-1.9 1-4.2 3-21.4 2-24.7 1-0.3 1,1 4,34.9 1,6.7 2,7.5 1,2.5 1,0.7 4,0.4 3-0.2 1-0.8 2-6.6 2-13.9 1-2.6 4,18.5 1-2.2 1-8.4 2-32.5 1-6.2 1,5.3 2,31.1 1,9.6 1,1.9 1-5.1 1-16.4 3-71.6 1,9.9 3,72 1,11 1,4.6 1,1.6 1-0.6 1-1.6 1-0.1 4,3.9 5-0.8 2,0.4 2-2.1 2-4.8 1,0.1 2,5 3,2.5 1-0.8 4,0 2-1 1-1.5 1-3.5 3-19 1-2.2 1,3.1 2,13.7 2,8.1 1,1.6 4,0.8 3-1 1,0.9 4-0.1 1,0.5 2-0.7 2-1.6 1-1.3 1-3 3-15 1-2.6 1-0.4 5,22.1 4,2.1 1,0.1 2-0.9 2,0.6 2-0.6 6,0.6 1-0.7 1,0.3 1-1 1,1.1 1-0.5 1,0.2 1-0.6 5,1.2 1-0.6 1,0.7 1-0.6 5,0.2 1-0.8 1,1.2 1-0.8 3,0.1 1-1 1,1.3 1,0.4 1-1.2 1,0.7 2-0.3 1-0.9 1,1.1 3-2.2 3-8.5 2-2.5 5,11.5 1,0.7 1-0.1 1,0.9 1-0.7 3,1.2 5-0.5 1-1.2 1,1 1-0.6 2-0.1 3,0.7 1-0.2 1,0.6 3-0.7 3,0.7 1-1.4 1,0.7 2,0.2 3-0.6 1,0.8 2-0.9 1,1.3 2-0.9 1,0.8 2-1 2,0.6 2-0.1 1-1.5 2,2 1,0.1 1-0.9 1,0 1,0.7 1-0.9 1-0.1 1,0.8 2-0.5 1,0.3 4-0.2 1,0.7 1-0.8 1,0 1,1.4 2-1.3 1,0.7 5-1.9 2-2.3 1-0.5 3,2.8 3,1.5 1-0.1 2-0.9 2-2.3 1-1.6 1-3.9 1,0.2 1-0.8 3,5.1 1,2.6 1,0.9 1-0.2 3,1.3 1-1.2 2,1 1-0.8 3,0.3 1,0.5 2-0.9 2,0.9 1-0.9 2-3.5 1-3.6 2-2.1 4,7.9 1,0.7 3,1.7 1-0.6 6,0.8 1-1.2 2,0.5 1-0.4 1,0.6 1-1.2 1,0.1 3-4.1 1,1.2 2-2.7 3-11.5 1-2.4 1,1 4,18.6 1,0.9 1-0.7 1-2.1 2-6.6 1,0.6 3,8.4 1,0.5 3,0.4 1-0.7 3,0.8 2-0.5 2,0.9 1-0.6 1,0.5 2-0.5 1,1.2 1-1.5 1,0.8 2-0.4 5-2 3,1.4 1-0.3 2,1.3 1-1 3,0.7 1-1.1 1-0.2 3-3.3 1-0.5 2-7.5 4-46 1,0.6 1,6.5 1,14.7 3,26.7 2,7.6 1,1.6 1,0 2,1.5 1-0.7 1-2.2 2-12.1 2-8.2 4,17.6 2,4.2 1,0.5 6,0.2 2,0.8 4-0.6 6,0.3 2-2 2-4 1-3.3 1-1.1 1,1.2 3,7.6 3,2.1 1-0.4 2,0.5 1-0.6 1,0.5 1-0.9 2,0.8 4-0.1 1-0.9 2-6.5 2-20.4 2-34.5 1-9.3 1,2.9 1,11 1,19.7 2,24.9 2,10.8 1,1.5 2,1.5 4-1.2 5-6.3 2,1.3 2,2.8 2,1 2,0.4 2,1.2 2-0.2 6,0.8 1-0.6 4,0.7 1-0.9 2-0.6 2-4.6 3-10.3 1-0.3 1,1.5 4,13.2 2,1.7 2-0.4 1,0.7 1-0.3 2,0.3 3-0.7 2-3 2,0 3,3.2 1-0.5 1,0.5 2-0.1 2-1.1 1-1.5 1-3.3 3-18.9 2-8.3 1,0.3 4,23.6 1,4.6 1,2.2 1,1.3 4,2.2 1-1.4 1-0.1 1,0.7 1-0.2 2-1.5 2-7 1-5.3 2-18.5 2-11.7 1,0.2 1,3.2 4,30.8 2,6.8 2,3.1 4-0.6 2-1 3-6 1-0.1 2,3.3 1,0.5 1-1.6 3-16.6 2-7.8 1-2.1 5,26.8 1,2.4 2,2 1-0.5 2,1.6 2-1 4-0.5 1,0.7 1-0.4 2,0.3 2-0.8 1,1.2 1-0.9 2,0.7 4-0.7 1-0.6 1,0.9 1-0.2 3-7 3-10.8 1,1.2 1-1.5 1,3.1 1,1.2 3,8.6 2,1.9 1-1 3-14.8 2-4.5 1,1.5 4,17.4 1,1.3 1,0.2 2-2.4 4-10.3 2-3.3 1-0.3 1,2.4 2,8.9 3,7.5 3-0.6 1-0.7 2-4.6 2-12.3 5-42.5 2,2.5 5,40.8 2,5.4 1-1.9 1-4 2-24.1 5-104.3 1-11.8 1-4.2 1,7.9 1,16.2 5,104.4 2,20.1 1,5.6 1,3.5 1,1.7 1-0.1 1-2.4 2-8.9 2-14.2 1-3.9 1-0.1 1,4.2 1,9.8 2,11.9 1,3.1 3,3.7 1-0.6 1,0.8 1,0.1 1-0.6 3,0.2 1-0.3 1-1.6 1,0.7 4-2.6 1,0.6 1-0.1 1,1.2 1,0.2 1,1.6 3-0.2 1,0.8 3-0.8 1,0.6 2-0.3 1,0.4 3-0.8 1,0.8 1-0.4 1,0.3 1-1.1 1,1.1 1-0.8 1,0.2 1,0.8 1-0.9 3,1.1 2-0.4 1,0.3 2-0.9 1,0.7 1,0.1 2-0.8 1,0.8 1,0 1-1.1 1,1.6 2-1.4 2,0.8 2-0.7 1,0.3 2-1 2-2.6 1-2.4 6-24.2 2-4.2 1,2.1 1,4.5 1,0.3 3,17.5 2,6.1 1-0.7 1,0.8 1-3 2-3.3 2-0.3 1,1 3,7.8 1,0.1 1,1.4 1,0.4 3,0 1,0.6 1-0.5 2-2.5 2-6.2 2-11.6 3-13 1,0.3 1,5.6 2,3.9 1,0.7 2-8.9 1,0.7 3,22.4 1,0.4 1-1.3 2-10.9 1-1.4 1,3 3,16.2 2,2.4 1,0.5 2-0.6 1,0.9 3-0.7 3-0.1 1,0.4 2-0.5 1,0.7 3,0.5 2-1 1,1.2 3-1.1 1,0.8 2,0.1 1-0.7 3,0.6 1-0.7 3,0.4 1-0.5 3,0.7 1-0.8 1-0.1 1,1 1-1 1,1.2 2-0.8 3,0.8 1-0.6 1,0.4 2-0.4 3,0.5 3-2.4 3-4.6 1-0.5 2,2 2,3.2 2,1.5 1,0 1,0.8 1-0.8 1-3.4 1-6.3 4-82.8 1,4.5 1,15.6 2,49.8 1,14 1,7 1,1.7 1-0.8 1,1 1-0.4 1,1.1 1-1.1 1,1.2 1-0.8 2,0.6 1-0.5 1,1.4 1-1.3 3,0.8 4-0.6 3,0.7 1-1.2 2,1.4 2-1.7 1,0.9 4-0.8 2,1.4 1-0.6 1,0.6 1-0.2 1-0.7 2,0.4 2-0.4 1,0.7 1-0.8 1,0.6 1-0.6 1,0.6 2,0.1 1-0.7 2,0.3 1-0.3 1,0.9 1-0.8 2,0.5 2-1.1 3,1.2 2,0.2 7-0.3 1,0.3 2-0.8 1,0.8 2-0.2 1,0.4 3-0.8 6,0.3 1-0.6 3,1.2 2-0.7 3,0.1 2,0.8 3-0.1 11,1.6 37,0.1" stroke="#e377c2"/><path d="M291,573.7l1-0.3 3-6.7 1,1.1 2,5.3 2,1.2 43,0.1 1-1.7 1-4.6 2-21.1 1-1.3 2,20.4 1,6.2 1,2 2,0.5 2-0.1 2-1.2 1-3.8 1-16.1 1-91.1 1-204.2 1-27.8 1,101.5 1,30.5 1-14.2 2-57.4 1,7 1-26.6 1-13 1,11 1,28.5 1,10.1 1,26.5 1-11.9 1,36.5 1-26.2 1,60.1 1-41.1 1,37.4 1-2.8 2,10.9 1,12.3 2,41.5 1-30 1,20.2 1-3.8 1,29 1-13.9 1,13.4 2-7.3 1,22.2 1-10.7 2,28.4 1-13.9 1,4.6 1-0.1 1,7.2 1-6.3 1,8 1-2.6 1,4.4 1,11.8 2,7.2 2-2 1,0.5 1,1.6 2-11.7 2-6.6 1-1.4 2-16.9 1,2.9 1,10.3 1-5.5 3,16.8 1-4.8 1,10.1 1-2.9 1,10.9 1,0.7 1,3.1 2,10.5 1,2.5 2,11.6 1,0.9 1-0.9 1,3.6 3,3.3 1,0.7 1-0.4 1,3 1-0.4 1-1.7 1,1.3 1,3.1 2-1.8 1,2.1 1,0 1-1.9 2,2.7 1-0.4 1,1.5 1-0.4 1,1.3 1-0.8 1,0.9 2-0.2 1-1.4 1,1.8 4,0.3 1,0.8 1-0.3 1,1.5 1,0.3 1-1.5 1,1.3 4-0.2 1,0.8 2-1.3 1,0.6 3,0 2,1.8 1-0.6 1,0.9 2-0.9 1,0.8 1,0.1 1-0.7 1,0.7 4,0.6 1-0.8 2,1.1 1-0.3 2,0.5 1-0.9 1,0.9 1-0.3 3-4.2 1-3.3 5-24.9 2-5 1,0.7 3,18.2 2,8.1 1,0.5 1-1.4 1,0.9 2,8.2 1,2.4 1,1.2 3,0.5 1-0.9 1,0.4 4-0.6 2,0.5 3-0.8 1,0.3 1-0.3 1,1.1 2-0.5 2,0.8 4-0.5 2,0.7 2-0.6 2,0.2 2-2 1-2.5 4-18.1 1-1.3 2,8.3 1,6.6 3,8.4 1,0.8 3,0.6 2-0.8 1,1 1-0.9 2,0.5 2-0.6 1-1.8 1-4.7 2-19.7 1-5.3 3,24.9 1,3.2 1-1.6 3-24.4 1-0.8 1,5 2,17.4 1,1.8 1-4.8 1-12.3 3-72.8 1-10.1 1,1.7 4,91.7 2,12 2,0.7 1-0.1 2,1 4-0.5 2,0.6 1-0.6 4,0.5 3-1 3,1.1 2-0.8 1,0.3 1-0.5 2,0.5 2-0.4 2-1.5 1-2.8 2-10 2-12.3 1,2.2 3,20 1,3 1,1.4 2,0.5 3-0.3 1,0.4 4-1.5 1-2.5 3-4.3 4,1.2 2-1.3 1-3.9 2-3.9 1,0.1 3,11.6 1,1.7 2,2.3 1,0.5 2-0.1 1,0.4 3-3.1 1-2.9 2-13.4 2-6.2 4,19.9 1,3.4 1,0.7 1-0.1 1-0.8 2-2.3 2,0.3 2,3 1-0.2 1,1.5 1-0.5 2,0.4 1-0.8 1,1.3 2-0.8 3,0.4 1-0.9 1,1.4 2-0.6 1,0.2 1-0.8 1,0.2 2-2.7 2-0.7 1,1.6 4,2.4 1,0.2 1-1.1 2,1.3 1-0.8 3-0.2 1,0.5 1-0.3 1,0.4 1-0.6 2,0 2,0.9 1-0.4 4-0.2 1-1 2-3.8 2-0.3 2,4.3 4,1.2 3-0.2 2,1 1-1.1 5,0.6 1-0.4 1,0.5 4-1 1,0.7 6,0.6 2-1 2-0.2 1,0.6 1-0.7 2,0.5 1-0.3 2,1 2-0.9 7,0.7 2-0.6 1,1.2 1-0.9 1,0.6 3-0.6 4,0.5 3-0.4 3,0.6 2-0.5 2-1.9 1-3.5 5-46.6 1,3.4 4,40.2 2,7.3 2,1.4 6-0.1 3,0.6 3-0.3 1-0.6 1,0.6 4-1.3 3,0.3 4,1.6 1-0.5 6,0.4 1-0.6 4,0 1,0.4 10-1.5 1-0.4 3-3.3 2,1.8 1,0.2 1-1.4 1-3.9 2-12.1 1-3 1,3.7 1,8.1 1,3.2 2,2.1 3,4.9 2,1.5 3,0.3 1-0.6 1,0.6 2-0.5 3,0.5 1-0.4 1,0.4 1-0.5 1,0.3 2-1.4 1-2 3-17 1-2.3 1,0.1 2,12.1 2,8.4 2,1.9 6-0.1 1-0.6 1-1.7 1-4.7 3-30.1 1-8.1 1-3.1 1,5.3 3,33 1,5.6 1,3 1,1.2 2,0.6 1-0.6 3,0.6 1-0.7 1,0.5 4-0.6 2,0.7 5-2 1,0.5 1-0.5 5,2.1 3-0.5 1,0.5 1-0.4 1,0.3 1-0.7 2,0.6 3-0.5 2-1.4 2-2.9 2-1.9 1-0.2 1,0.1 3,4.1 3,2.1 1-0.4 1,0.8 1-0.4 1,0.3 2-0.8 1-1.2 2,0.3 1-0.4 1-0.8 1-2.5 2-12 2-16.4 1-4.1 1-0.4 1,3.2 2,15.3 2,8.9 1-0.2 1-0.9 1-1.8 2,3.5 2,7.1 2,2.2 2,0.1 1-0.6 2-0.2 4,1.1 2-0.2 1,0.6 1-0.5 1,0.6 1-0.9 2,0.7 5-0.6 1-0.6 2-0.1 2-0.8 3,1.9 1-0.5 2,0 1-0.8 1,0.7 1-0.7 2,0.9 1-0.3 3,0.6 4-0.3 1,0.5 2-0.2 1-0.6 1,0.8 1-0.5 4,0 3,0.6 1-0.8 1,0.6 2,0.1 3-2.5 1-2.3 1-0.9 3-17.4 2-3.6 1,0.5 4,19.4 1,2.6 1,1.6 2,1.8 6,0 3-3.7 1-3.8 2-15.4 1-12.4 1-5.4 1-2.5 1-0.3 1,5.2 3,27.6 2,8.4 2,2.1 3,0.6 1-0.4 1,0.3 1-0.5 1,0.5 3-0.3 1,0.6 1-1 1,0.5 1-1.2 1-0.1 2-4.5 3-10.2 1-1.2 1,0 1,1.1 4,12.4 1,1.5 2,1.7 1-0.1 2,1.3 1-0.7 1,0.8 1-0.7 1,0.4 2-0.8 1,0.6 1-0.6 4,0.6 2-0.6 2,0.9 1,0 1-0.6 1,0.3 1-0.6 1,0 1-0.9 1-1.8 1-4.6 3-21.4 4-49.2 1,1.3 4,51.7 2,12.9 1,0.8 1-1.7 4-16.4 1,1.4 1,6.1 1,2.2 1,8.2 2,8.1 1,1.8 1,0.9 2,0.6 2-3.2 1-3 3-14.3 1-1 1,0.6 3,15.7 2,5 1-0.5 2-2.6 2-5.6 4-24.8 2-10.5 1-2.8 2,5.3 3,20.1 2,10.1 1,2.1 1,0.6 1-2.1 2-9.2 1-7.5 5-54.1 1,0.2 2-2.1 1,6.3 1,15.2 5,48.4 1,6.4 1,3.2 1,2 1,0.6 2-2.1 3-7.2 1-0.4 1,0.6 2,3.4 1,3.4 2,3.2 1,1 3,0.8 7,0.1 2-0.7 3,0.7 5,0.2 2-0.9 2,1 2-0.9 5,1.1 3-0.6 5,0.4 3-0.6 1,0.4 2,0 1,0.5 1-0.6 2,0.4 2-0.6 2,0.4 1-0.2 2-1.6 2-2.1 1-2 1,0.4 2-1.8 4,4.1 1,0.5 5-1.7 2,0 3-2.1 1-1.3 1-0.1 2-1.4 2,1.1 5,6.5 3,1.7 3,0.4 1-0.6 1,0.4 2-0.3 2,0.6 1-1 2-0.6 4-5.1 1-0.2 1-1.1 1,0.8 2-3.5 3-10.9 1-1.1 1-4.4 3,7.8 1,1.3 1,0.2 2-8.4 1-9.2 1-3.5 2,8.5 1,9.9 1,4.8 1,0.2 3-9.7 1,2.8 3,16.4 1,3.2 2,2.5 5-0.3 4,0.5 2-0.6 1,0.3 1-0.3 1,0.9 1-0.6 1,0.4 3-0.8 1,0.4 1-0.3 3,0.5 5-0.8 2,0.4 2-0.4 1,0.6 2-0.4 1,0.4 1-0.7 4,0.5 5-0.3 1,0.3 2-0.6 2,0.5 3-0.9 1-1.7 1-0.4 2-2.6 2-0.8 4,5.2 3,0.5 2-1.9 1-3.2 4-27.3 1,0.5 1,3.6 3,23 2,5.4 5,0.6 2-0.9 4,0.6 2-0.8 2,0.4 1-0.5 2,0.6 1-0.5 1,0.8 3-1.1 1,0.9 1-0.5 1,0.5 1-0.6 4,0.1 2,0.5 1-0.7 1,1.2 1-1.5 1,0.7 2-0.8 1,1.5 5-1.7 1,0.7 1-0.6 1,0.7 1,0 1-0.7 1,0.6 1,0 2-4.6 2-16 1-4.6 1,0.9 2,16.8 1,4.5 1,2.1 2,0.6 1,1 1-1 1-0.2 1,1 2-1.2 1,0.1 1,0.7 1-1.4 1,1.1 4-0.2 1,0.7 1-0.6 1,0 1-1.1 1,0.9 2,0.5 1-0.4 3,0.7 3-1 2,0.6 1-0.4 2,1.1 4-0.2 1,1.2 2-0.2 2,0.7 3-0.2 1,0.6 2,0.1 1-0.3 12,0.4 1-0.4 3,0.5 5-0.4 15,0.4" stroke="#7f7f7f"/><path d="M291,572.4l3-15.1 1-0.3 2,11.5 1,3.2 1,1.4 3,0.7 5-0.5 3,0.8 4-0.7 4,0.6 2-0.6 3,0.1 2,0.6 9-0.4 1,0.4 3-0.3 2,0.5 3-0.6 1-1.5 1-7.8 2-35.1 1,1.9 2,35.7 1,5.9 1,1.2 1,0.4 4-0.2 1-0.5 1-2.3 1-6.1 1-15.4 1-30.3 1-45 2-150.1 1,7.5 1,24.4 3-62.9 1,17.3 1,5.2 1,14.4 1-25 1,30.4 1-0.5 1,7.3 2,51.8 1-33.8 1,57.4 1-31.4 1,22.1 2,6.5 1,10.4 2,12.4 1,27.8 1-4.4 1-22.1 1,35.3 2-15.9 2,24.2 1-0.1 1,8 1-1.6 1,1.6 1,7.9 1,0.5 1-4.7 1,7.8 1,0.8 1-3.7 1,11.6 1,0.9 1,10.2 1-4.3 2-3.5 1,1 1-14 2,13.1 1-12.2 1-2.8 1,2.4 1-1.9 1-5 1-0.3 1,3.6 2-8.9 1,8 1-0.3 1,0.5 1,2.4 1,0.9 2,7.3 1,9.8 1,1.7 2,11.6 2,6.5 1,5.2 3,8 1-2.3 2,5.2 1-2.4 1,2.7 1-2.2 1,4.8 1,1.1 1-1.8 1,1.9 1,0.7 1-0.3 1-1.2 2,2.1 2-1.6 1,0.3 1,1.9 1,0.4 2-0.7 1,0.5 1-0.5 2,2 1-0.6 1,0.9 1-1.3 1,3.2 2-2.3 1,1.2 1-1.2 1,1.3 2-0.4 1,0.5 2-0.5 1,1.1 2,0.7 3-0.5 1,0.2 1,1 1-2 1,2.6 1-1.4 1,0.5 2-0.5 2,1.9 1-1.9 1,1.8 1-1.6 1,1.8 1-1.8 1,1.9 1-1.2 1,1.1 1,0 1-1 1,0.3 1-1.2 1,1.7 1-1.1 2-4.5 6-25.9 2-1.7 1,3.3 1,1.6 1,6.7 1,2.8 3,15 2,3 2,1.2 1-0.1 2-1 1-2.3 1,0.8 1,2 1,0.6 1-0.3 1,0.3 2-1.9 1,2.1 1,0.5 1-0.1 1,1.1 1-0.8 1,1 1-0.9 2,0.4 1,1.5 1-1.2 2,0.2 1-0.8 6,0.7 1-0.9 2,0.4 1-3.1 2-12.7 4-47.9 2-5.4 4,50.3 2,11.7 1,0.5 2-11.9 1,3.5 2,12.8 1,1.7 1-0.3 1-2.6 1,1.6 1-3.7 1-1.7 4-38.7 1-2.3 1,15.2 2,17.2 1-3.3 2-22.3 1-3.3 4,39.3 1,0.7 1-5.5 1-14.6 3-99.5 1-9.8 1,6 2,69.9 2,44.6 1,10.2 1,3.4 2,1.1 1-1.1 2,0.5 1-0.4 2,1.1 1-1.3 1,1.5 1-1.4 1-0.2 1,1.2 1-1 1,0.7 2-1.5 1,0.4 1-0.4 2,1.3 1-1.5 2-0.7 1-1.6 1-3.4 1,1.8 1-0.4 2,4.7 1-1.2 1,2 3-12.1 2-13.1 1,0.9 1,2.8 2,14.8 2,3.1 1,0.2 2-2.7 1,3.5 2,3.8 2-1.3 1,1.1 1-1.2 2,1.8 1,0.2 1-1.7 1-0.1 1,1.2 1-1.2 1,0.2 1-0.7 2-0.1 2-3 2,1.5 1-0.3 2,2.8 1-0.5 1,1.2 1-0.5 1,0.9 1-1 1,1 1,0.1 1-1.9 2,1.3 1-1.1 1,2.4 1-2.8 2,1.5 2-1 2,0.6 1-0.5 1-1.6 1,0.9 1-2.4 1,0.2 1-1.8 2,3.8 3-1.3 1,0.7 1-1.9 1,1.3 2,0.9 1,1.1 2,0.1 1,1.1 1-0.4 1-1.4 1,1.4 1-0.3 2,1.6 1-2.2 1-0.1 1,1.8 1,0.6 1-0.5 1-2.7 2,2 3-0.7 3-3.2 1,0.5 1-1.2 1-0.1 3-5.6 1,0.4 2,7.1 1,1.9 1-0.7 1,1.5 1-1.3 1,1.3 1,0.6 1-0.3 1,0.8 2-1.4 1-1.5 2-0.1 1-1.5 2,1.7 3,1.5 3-0.4 1,1.1 1-1.6 1,0.9 1-0.1 1,1.1 2,0.1 1-0.9 2,0.7 1-1.1 1,1.2 1-1 1,1.2 1-0.1 1-1.9 2,0.7 1,1.1 3-1 2-1.8 2,1.5 1-0.7 1,0.2 1,1.4 2,0 2-0.8 1,0.6 1-0.4 2,0.8 1-0.7 1,0.7 1-0.8 2,1.1 3-1.4 1,1.7 2-2.5 1,0.2 2,1.9 1-1.3 1,2.1 1-1.7 1,1.5 2-2.4 3-20.2 1-1.8 1,1.7 2,14.4 1,4.9 1,1.8 2,0 1-0.8 1-2.2 2-0.1 5,4.7 1-1.3 2,0.4 2,2 1-2 1,0.7 1-0.7 1,1.3 2,0 1-1.2 2,0.1 2-5.7 1-6.6 3-33.6 1,1.4 2,21 2,13.3 2-1.2 1-3.8 2,0.8 2,7.9 2,5.2 2,1.2 1,1.8 1-1.5 1-0.1 1,1.4 1-1.8 2,1.3 1-0.7 1,0.5 2-1.4 2,1.8 3-0.9 1,0.8 1-1.1 1,2 1-1.7 1-0.6 1,1.5 1-1.5 1,1.1 2-0.5 1,0.8 3-0.7 2,0.3 2-0.9 1,0.6 1-1.1 2-11.3 1-2 1,1.6 2,9.8 2,3.2 3-0.5 1,1.1 2-0.8 1,0.8 3-1.5 4-8.9 4,9.1 2,1.2 1-0.3 2,0.6 1-1 1,1.2 2-1.4 1-1.4 1-5.5 4-48.1 1-3.9 1,4.7 3,41 1,8.5 2,5.9 2-0.4 3,0.8 2-0.8 1,1.1 1-1.3 1-0.5 1-2.1 1-0.7 3-10.1 3-27.7 1-3.6 1,4.9 3,30.9 1,5.3 1,3 1,1.3 1-0.4 1,0.6 1-0.8 4,1.1 1-0.7 1,0.7 1-0.5 2,0.3 1-2.2 2-1.3 1-1.8 1,1.4 1-0.9 2,3.3 1,0.8 1,0.4 1-0.3 1,0.9 1-0.9 3,0.6 1-0.4 2-2.3 1,0.9 1-0.1 1,1 1-0.6 1,0.9 2-2.8 1-4 4-25.6 1,0.9 1,3.3 3,18.4 1,2.2 1-0.1 2,4 1,0.2 1,2.4 1,0.9 2,0.2 2-2.3 2-8.5 2-14.4 1-3.1 2,3.2 3,20 1,1.9 1,3.7 1-0.8 2,1.3 2,0 1-0.9 2,0.4 1,0.8 1-0.8 4-0.4 2,0.7 4-1.5 1,1.2 1-1.3 1-0.2 3,1.1 1-0.6 1,1.3 1-1 1,1.2 1-0.8 1,0.3 1-1 1,0.8 2-3.9 3-9.6 1-1.7 1,0.1 1,4.3 4,9.4 1,1.5 1-0.6 1,0.7 3-1.3 2-5.3 2-12.5 1-12.9 2-13.1 1-3.4 4,36.6 2,9.4 3,2.6 1,0.2 1-0.9 2-0.2 2,0.8 1-1.3 1,0.1 3-2.2 2-4.9 1-5.1 1-1.9 1-4.5 1,0.7 1,3.3 1,1 1,5.7 2,5.1 2,2.5 2,0.2 1,1.1 1-1 1,1.2 1-0.9 1,0.4 1-1.4 1,0.9 2-0.7 1,0.5 1-0.3 1,1.3 3-3.4 5-14.3 2,0.7 1,3.7 1-1.1 1,5.6 2,5.5 2,1.3 1,0.2 1,1.6 2-0.6 1-1.1 1,1.1 3,1.3 2-1.3 1,0.7 1-0.7 1,0.3 3-3 2-0.9 1,0.6 1,2.3 2-0.2 1-0.6 1,1.2 2-5.7 1-6.1 1-2.6 2-14.9 2-7 1,0.4 5,29.7 1,0.7 1-0.3 3-11.3 2-10.4 1-0.7 1,1.5 1,3.9 2,13.3 1,1.8 1,4 2,1.3 1-0.2 1-2.4 3-16.8 2-2.3 2,5.2 3,14.2 1,1.3 2,0.5 3-7.5 3-22.7 3-39.9 3-31.5 2,7.4 2,30.8 4,41.6 2,6.9 2-7.9 5-43 2-5.1 1,4.8 2,17 2,20.9 3,19.7 1,4.7 2,4.9 1-1 1,1.8 1-1.5 4-14.9 2-1.6 1,5 1,1 1,5.6 2,3.5 2,1 2,1.9 1-0.6 2,0.8 1-1.6 1,0.9 1-0.5 1,1.7 2-0.7 1,0.4 1-0.8 1,0.4 2-1.8 1,2 3-1.9 1,2 1-0.9 3-0.8 1,1.5 3-1.3 1,2.2 1-3.1 1,1.7 3-0.3 1,0.7 1-1.5 1,1.2 1-0.2 1,0.5 2-1.5 1,0.8 1-0.6 1,0.8 1-1 1,0.6 1,1.9 1-1.7 2-0.1 1-0.7 1,1.4 1,0.1 1-0.9 1,0.3 1-1.3 1,0.9 3,1 1-1.3 2,1.3 1-1.7 2,1.4 1-1.3 1,1.2 4-5.3 1-3.3 1-0.4 2-6.3 1-0.8 2,3 1,0.2 1,5 1-0.1 2,4.8 2,1.4 1,2.1 1-1.5 1,0.8 1-0.3 1,2.1 1,0 1-1.7 1,1 2-0.9 1,1.1 1,0.2 1-2.1 2,1.6 1-1.2 1,1.1 1-1 1,0.7 2-2.4 1-0.4 1-2.3 1,0 1-3.4 2-1.3 1,0 1-1 1,0.2 1,2.4 1-1.2 1-3.4 3-31.5 1-1.9 3,30.9 1,5.9 1-0.5 2-11 1-0.8 5,21.5 1-0.7 2,1.3 2-1 2,1.3 1-1 1,0.3 1-0.7 2,1.4 2-1.2 1,0.6 2-0.7 2,1.4 2-2.6 1-0.3 1,1.8 2,0.7 1-0.8 1,0.3 2-1.2 1,1.4 1-1.8 1,1.7 2-0.2 1-1.7 1,1.3 1-0.7 1,1.4 2-1 1,1.7 1-1.7 1-0.2 1,1.5 1-1.5 1,1.5 1-0.6 1,0 1-1.5 1,1.8 2-0.9 1,0.6 1-1.4 1,0.6 1-0.8 1-2 3-13 1,1.5 1-1.7 3,12.4 2,2.8 2,0.6 1,1.1 1-2 1-0.8 1-5.2 1-14.4 3-105.4 1-15.3 2,44.8 2,71 1,15.7 1,6.6 1,3.3 1,1.4 1-1.3 1,0 1,2.8 1-1.8 2-0.2 1-0.8 1,1.1 1-0.8 1,0.8 3-0.6 1,1.1 1-1.4 2-0.1 1,2.1 1-0.6 1-1.5 2,2.4 1-0.7 1,0.8 2-2.1 1,3.1 1-2.9 1-1 1,1.7 1-0.2 1-1.1 1,2.7 1-2.2 1-0.7 1,1 1-0.9 1-0.1 1,1.4 1-0.7 2,0.3 2-1.5 1,2.1 1-1.7 1,2.3 1-2.1 1-0.1 2,2.3 1-2.4 1-0.3 3-11.4 1,0.4 2,8.5 2,4.3 1-0.6 1,1.1 1-0.6 1,0.4 1-0.5 1,1.6 1-1.3 2,1.1 1-0.5 1,0.7 1-1.8 1,2.4 1-2.2 1-1 1,1.7 2,0.2 1-0.6 2,1.3 1-1.1 2,0.9 1-0.8 2,0.7 1-1.5 1,1.5 1,0.3 1-2.3 1,3 1,0.8 1-1.8 3,2.3 5,0.1 6,2.4 4-0.5 19,0.9 3-0.5 4,0.5 2-0.3 6,0.3" stroke="#bcbd22"/><path d="M291,571l3-10.3 4,11 3,0.1 2-0.6 1,0.8 1-0.6 2,0.7 3-0.8 4,1.2 3-0.8 4,0.5 1-0.7 2,0.8 1-0.9 1,0.9 1-0.2 1,0.5 1-0.9 3,0.6 1-0.4 3,0.8 1-0.9 6,1 2-3.8 2-10.8 1-3.1 2,11 2,6.1 2,0.9 3-1 1-5.9 1-12.3 1-29.3 3-147.7 1,5.7 1,24.5 1-27.6 1,33.5 1-15.2 1-36.5 1,22.6 2,20 1,2.5 1,11.4 1,36.5 1-34.1 1,17.1 2,20.2 1,6.4 1,2.5 1-1.3 1,19.6 1-6.5 1,12.6 1-11.2 2,21.3 1-6 1,4.1 1,10.6 1-8.9 2,13.2 4,11.6 1-1 1,4.7 1-6.1 1,3.5 1,9.9 1-3.3 1-0.9 1,2.9 1-2.4 1,4.9 1-2.8 1,1.8 1-0.1 1,1.5 1-4.7 1,4 1-0.3 1,1.5 2-4.8 1,2.3 1,4.5 1-6.4 1,0.8 2-5.6 1,4.3 1-1.6 1,0.2 1-3.2 1,4.9 1-6.5 2,8.1 1,1.5 2,9.7 1,1.8 1-1.1 2,0.5 1,1.4 1-0.4 1,3.4 1,0 1,3.9 1-2.9 3,2 1,2.9 1-1.8 1-0.7 2-0.4 1,0.6 1,1.6 1-1 1,2.4 2-1.3 1-1.4 2,2.4 1,0 1-2.3 1,1 1,0.3 1,1.7 2-3.7 1,4.8 1-2.2 1,1.9 2-2.3 1-0.1 1,2.6 1,0.2 1-1.5 1-0.4 1,2.6 2-1.9 1-0.4 1,0.9 1-0.3 1,1.4 2-2.7 1,4.3 1-3.4 1,4 4-3.2 1,1.9 1-1.5 1,1.8 1-0.5 2,3.6 1-2.3 1,0.6 2,0.1 1-0.8 3-0.6 2-2.4 3-22.4 4-45.1 1-21 1-1 1-11.9 1,8.6 1-0.3 2,34.2 2,22.5 4,30.1 1,1 3,8.6 1-0.1 2,2.1 2-1.3 1,0 2,1.6 1-2.1 2,2 1-0.7 2,1.9 1-0.3 1,1.4 2-3.4 2,4 1-2.5 1-0.8 1,1 1-1.9 1,2.2 2-0.4 1-1.1 1,0.8 2,0.2 1-2.2 1,0.7 1,0.1 2-7.5 3-19 1-2.8 1-1 1,2.5 2,9.5 1,7.9 2,8.2 1,2.2 1,1.5 2,0.2 1-1.6 1,1.7 2-0.6 1-1.8 1,2.1 2-6.5 3-50.6 1-2.9 3,49.3 1,7.3 1-1.4 1-3.1 1-10.7 2-4.1 3,16.6 1,4 1,1.1 1,0.7 4-19 1,3 1-0.1 1,7.8 2,8.2 2-2.7 1-3.5 1-1.2 1,2.8 2,2.6 1,4.3 1-1.3 1,0.1 1-1.8 1,1.3 2,1.1 2-2.1 2,2.3 1-1.8 1,2.2 1-1.4 1-0.4 1,1.8 1-0.7 1,0.9 1-2.9 1,1.9 1-0.7 1,1 1-1.7 2,1.1 2-2.6 4-37.4 1-5.4 1-1.6 4,39.1 2,6.7 1,1.7 1-0.1 1,1.3 1,0 2-2.2 1,1.1 2-0.6 1-1.4 1,0.2 1-2.5 2,2.2 1,0.4 1-0.3 2-3.5 3-13.6 1-0.1 1,2.2 3,16.2 1,0.9 1-0.5 1,1 2,0.2 2-1.3 2,1.7 1-1.3 1,0.9 1-1.6 1,1.9 1-0.4 1,1 1-1.7 1,0.8 1-0.3 2-1.9 1,1.6 1-1.1 1-2.8 2-12.7 1,1.3 3,11.4 2,4.9 4-0.1 2-1.2 1,0.9 1-0.5 4,1.1 1-2.1 1,1.7 1,0.4 2-0.4 2,0.3 1-0.4 1-1.1 1,1.6 1-0.2 1-1.1 1,2 1-0.6 1-1.7 1,0.4 1-1.5 1,0.7 2-1.5 1,3 1,0.8 1-0.7 2,1.1 2-0.9 1-1.1 3,0.6 1,1.1 1,0 1-1.2 1,1.1 1-1.3 1,0 2-1.8 1,0.1 1-0.8 1,1.8 1,0.1 1,1.6 1-0.4 1,1.2 1-1 2-0.6 2,1.2 2-3.5 1-3.9 2-3.3 1,1.3 2,6.3 2,2.8 2-0.8 2,1 4,1 1-0.1 1-0.7 2,0.9 1-1.9 1,0.9 5-1.7 2-4.9 1,0.6 1,1.5 1-1.4 1,0.4 4,5.1 5,0 2,0.8 1-2.2 2-0.6 1,1.4 2-1.3 1,0.3 1,1.3 1-1.1 1,2.2 1-0.4 2,0.5 1-1.4 1,1.1 1-2.7 1-3.1 2-10.7 2-5.3 1,2 3,16.1 1,2.1 1,0.9 1-1.4 1,1.6 1,0 1,0.7 2-1.3 2,0.1 3-1.7 1-1.8 1-4.6 2-12.8 1-1.8 1-0.2 2,8.9 1,1.7 1,1 1,0.3 1,0.2 1-0.8 1,0.1 1-3.8 1-0.1 3,13.7 1,0.9 1,3 2-1.3 1,0.8 2,0.1 1-1.4 1,1.1 1-0.7 1-0.1 1-3 3-17.1 2-7.5 1,0.6 3,20.2 2,6.5 2,1.3 2-0.6 1-1.5 1,0.3 1,1.2 2-0.8 2,0.9 2-1.5 1,1.3 1-0.5 2-0.1 1,1.1 1-0.8 1,0.7 2-0.7 1-1.5 1,1.5 1-0.7 2,1.2 2,0.3 1,0.7 1-1.4 3-0.2 1-1.5 1,1.2 1-1.9 2-10.4 2-19.6 1-0.2 3,23.6 1,5.2 1,2.8 1,1.3 2-1.1 1-1.3 1,2.4 3-1.4 1,1.3 1,0 4-4.7 1-0.5 1,0 1,1.7 5,3.7 1-0.1 1-1.9 1,2 2-1.2 2,1.9 3-2.3 1,0.6 1-1.1 1,0.3 1,1.8 1-0.6 1-2.8 1-0.2 1-3.3 1,2.3 1-1.5 1,1.1 1-0.6 1,0.2 2,5 1-1.2 1,1 2-1.3 1,1.5 3,0.5 3-1.7 2,0.1 1-0.9 1-0.2 1-2.1 1,1.4 2-1.1 1,1.2 1-0.5 1,2 4-0.8 1,2.5 1,0 3-2.1 1,1.4 1-2 1,1.4 1-1.3 2,1.5 1-2.5 2-10.5 1-8.2 3-30.8 1-1.2 5,44.9 2,6.7 1-0.6 1,0.5 1,1.4 1-1.5 2,1.3 1-1.6 1-3.2 2-9.4 2-16 1,2.6 1-0.3 3,19.1 2,6 1,1.4 3,1.6 1-2.9 1,2 1,0 1-0.9 1,1.4 1-1.1 1,0.5 1,1.5 2-1.4 1,0.6 1-0.3 1-1.2 2-0.8 1-1.6 2-10.5 2-3.1 1,0.6 3,11.9 2,2.9 2,0 1,1.5 1-1.6 2,1 2-1.5 1-3 2-3.6 1-4.6 1,2 1-0.8 1,1.2 2,7.3 1-1.1 1-0.1 1,1.2 1-0.4 2,1.3 2-4.3 2-6.3 1-5.9 1-2.8 1-2 1-0.1 6,21.2 1,0.4 1,2.1 2-1 1-2.3 3-17.4 1,0.6 1,3.3 2,9.7 1-0.3 1,1.3 3-18.8 1-4 2-2.8 2,6.3 3,15.9 2,6.7 1,0.3 1,1 1-0.2 1-1.1 1,1.8 1,0.2 1-1 1,1.1 1,0.3 2-1.3 1,1.7 1-1.5 1-0.1 2-5.4 3-17.3 2-17 1-2.9 1-1.5 2,17.8 3,18.2 3,7.3 2,1.2 1-0.3 1,0.6 1-2.4 1,1.7 1,0.2 1,1.8 1-1.6 1-0.1 1,1.9 1-1.6 1,0.7 1-0.8 1-1.6 1,3 1-2.5 1-0.4 2,1.1 1,1.9 1-3.4 1,1.7 1-1.4 2-0.2 1-2.2 2-12.4 3-38.6 1-4.6 2,11.2 1,14.5 3,27.5 1,0.8 1-4.4 1-0.9 1-5.2 3-1.4 3,7.5 1,1.1 1,3.9 2,4 2,0.7 1-1.5 1,1 2-4.9 1,1.3 1-3.2 1-1.6 1,0.9 1-3.7 3,7.5 3,1.9 1-0.9 2,1.1 2-5.3 1-6.6 1-0.6 1-6.5 2-6.2 1-5.3 2,2.4 1-1.7 1,4.3 1,1.6 2,14.8 1,0.8 1,2.1 1-1.6 1,2.2 4-19.7 2-18.5 2-10 1-0.5 1,7.7 1-1.9 1,10.8 1,4.1 4,26.2 1,3.1 2,2.4 2-0.2 1-0.9 2-7.3 1-2 1-0.2 1-1.3 1,0 2,5.7 1-1.7 1,3.7 1-1.6 1,1.2 1,2.8 1,0.2 2,4.1 1-0.5 1,2.9 1,0.6 1-1.1 1-0.1 1-1.3 1,2.6 1-2.7 1,1.1 1-0.4 2,1.3 1-4.6 2,3.8 1-2.4 1,0.3 1,4.7 2-4.5 1,1.2 2-4.1 1-0.3 3,1.9 2,0.6 1-1 1,0.5 1,1.7 2-1.6 1,0.4 1-0.3 2-5.3 1,4.1 1-3.4 1,1.5 2,5.5 1,0.2 1-2.1 1,4.2 1-4.7 1,2.6 1,0.1 1,2.1 1-2.2 1-0.9 4,0.8 1-0.6 1-1.6 1,2.4 2-1.8 2,2.6 1-1.2 1,0 4-9.3 1-5.5 2-6.4 2-13 2-2.7 1,2.9 1-1 6,29.8 1,2.7 2,3 1-1.8 1-0.2 1,3.8 1-2.1 1,0 1,1.5 2-2.5 1,1.6 1-0.4 1,1.2 1-0.5 1,2.5 1-2.6 1-0.6 1,1.8 1-1.8 1,1.5 1-4.1 1-1.1 1-2.8 1-1 1-3.9 1-2 1,1.7 1-3.3 1,0.3 1,4.6 1,1.3 1-2.6 1-6.2 1-1.6 1-0.4 1,0.6 3,14.5 1,2 1-2.1 1,0.6 2-0.8 1-1.6 1,4.5 1-1 1,1.5 2,1.3 1,1.9 1,0 1-0.7 1,0.5 1-1.5 2,2.9 2-3.7 1,3.4 3-3 1,1 1-0.6 1,1.5 1-0.7 2,1.7 1-1.2 1,1.9 1-3.6 1-0.5 1,0.8 1,2 1-0.1 2-1.5 2,1.8 2-2.1 1,1.7 1-2 1,1.8 5-0.2 1,1.2 1-1.5 1,0.9 1-0.1 1-1.1 1-0.2 3,1.2 1,2.5 1-2.7 1,0.2 2-1.5 1,1.2 1-0.4 3-4.3 1,0.7 1-0.8 1,1.1 1,2.4 1,0.8 2,0.1 1,2.4 1-0.2 2-3.1 2-6.2 2-34 2-51.5 1-13.7 4,86.3 1,13.6 1,5.2 1,2.6 2-1.4 2,1.6 1-1 1,0.6 2-1.2 1,1.4 2-0.8 1-1 1,2.9 1-2.5 1,0.7 1-0.2 2,1.6 1-1.9 1-0.7 4,2.8 1-2.4 1,0.7 1-0.3 2,1.4 1-1.2 1,1.1 1-1.9 1,0.9 1-0.7 2-0.1 1,1.2 1-0.8 2-0.3 2,2 1-2.4 1,0 1,1.2 1-0.9 2,2.7 1-3.4 1,2 1,0.7 1-1.4 1,0.9 1-1.6 1-0.6 1,0.1 1-1.6 1,1.5 1-1 2,3.1 1-0.3 1,0.6 2-1.1 1,0.8 3,0 1-0.7 1,2.2 1-1.9 1,0.2 1,1.7 3-2 2,1.2 1-0.7 2,0.2 1-2.2 1,2.5 1,0.8 1-1.6 1,1.3 1-2 1,1.2 1,0.2 2-0.1 1-0.6 2,0.5 1,1.8 2-1 1,1.3 2,0.9 1-0.9 1,1.2 2,0.9 2,0.6 1-0.4 1,1.3 2,0.2 4-0.4 3,0.5 1-0.4 3,0.1 26,0.8" stroke="#17becf"/><path d="M291,572.2l1-3.7 2-12.6 1-0.7 3,17.1 1,1.4 1,0.4 41,0 2-0.9 1-3.6 1-10.2 2-35.4 1,4.8 3,40.8 1,3.7 2,0.7 2-1.1 1-2.4 1-5.4 2-23.4 2-17 1,7 3,33.2 1,5.6 1,2.4 1,0.9 4,0.4 5-0.2 2-1.4 1-1.7 4-14.4 2,3.3 1,3.8 1,1.5 1-6.3 2-31 1,4.8 2,36.5 1,4.4 1,0.6 1305,0" stroke="#1f77b4"/><path d="M291,571.1l1,0.2 3-9.5 1,0.5 2,7.2 2,2.7 1-0.8 1,1.2 1-0.9 1,0.9 1-0.9 2,0.7 4-0.2 1,0.5 1-1 2,0.8 1-0.7 2,0.3 1,0.6 1-0.5 2,0.6 1-0.6 1,0.6 2-0.3 1,0.6 1-0.7 1,0.3 1-0.4 2,0.8 1-1 1-0.2 1,1.5 1-0.7 1,0.7 1-0.7 5,0.4 1-1.2 1-3.8 2-18.5 1-3.9 3,24 2,3.8 1,0.1 1-0.6 1,0.2 1-1.6 1-4.3 1-12.7 2-48 2-68.8 1-3.7 1-9.4 1-1.6 1-10.7 2-8.5 1,41.1 2-33.9 1,22.5 1,10.3 1,5.4 1-3.8 2,9.5 1,1.3 1,12.7 1-11.4 1,20.1 1-2 1,20.3 1-19.8 1,10.9 1,2.7 1,13.7 1-4.6 1-1.7 1,7.1 2,7.7 1,7.7 1-6.8 1,9.3 1-2.1 1,5.5 1-7.4 1,4.1 2,3 1,6.6 1-4 1-1 1,7.6 1,3.4 1-6.9 1,6.3 1-0.2 1,0.7 1-1.3 1,2.3 1-6.4 3,4.5 2-8.3 1-0.3 1-4.6 1-0.1 1-3.2 1,5.2 1-8.6 1,0.7 2,6 1-1.8 1,0.8 2,8.9 3,5.8 1,7.1 2,7.6 1-3.3 2,7.1 1,0.4 1-1.7 1,3.5 2,0.8 1,1.3 1-1.5 1,2.8 1-3.1 1,1 1-0.1 2,2.3 1,0.3 1-1.3 3,0.6 1-1.2 2,4 1,0.4 1-3 1,2.6 1-1.3 1,2.8 2-3.2 1,1.4 3,0.1 1,1.4 2-1 1,1.2 1,0.2 1-2.1 1,2.3 1-1.4 2,2.3 1-0.1 2-1.4 1,1.2 2-0.1 1,1.1 1-1.6 1,0.9 3,1 2-1.4 1,1.9 2-1.2 1,1.4 1-1.3 1,0.3 1,1.7 1-1.2 2,0.6 2-0.1 1-1.7 1,1 3-8.8 1-6.4 2-20.9 2-32.7 1-6.7 1-16 2,12.1 1,3 1,20 4,45.2 1,6.3 3,6 1-0.4 1,1.1 1,0 1-0.8 3,1.1 2-0.6 3,0.8 1-0.6 1,0.7 2-0.3 3,0.8 1-2.1 1,1 1-1.1 1,0.6 1-1.1 1-1.5 1-4.1 1,0.5 3,6.7 1,0.4 2-0.5 1-1 1,0.2 2-8.4 1-8.1 3-34.4 1-3.2 1-0.1 1,2.8 4,43.6 2,7.2 2,2 1-0.7 1,1 3-3.8 1-4.1 2-3.8 1-0.8 3-18.4 1-0.9 2,18.5 2,7.8 1-6.5 2-25.6 2-16.1 3,39.2 1,5.7 1,0.1 1-7.6 1-21.4 3-96.6 1-2.3 4,119.9 1,9.8 1,4.1 2,2.5 3-0.3 1-0.9 1,1.4 1-2.5 1,2.6 2-1.2 1,1 1-1.5 2,1.1 1-0.5 1,1 1-1.7 2,1.1 1-1 1,1.7 1-2 2,0.4 3-0.3 1,0.9 1-0.6 1,0.7 1-0.1 1-1.5 1-0.2 3-7.9 2,1 3,5.9 1-0.2 1-1.3 2-13.6 1-3.9 1,0.9 2,13.5 2,5.9 2,1.5 1-0.6 1-2.5 1,1.1 2-6.9 1-1.3 2-5.9 6,7.7 1,2.8 1,0.9 1,3 1-1.3 1,0.6 1,2.9 4-2.8 1,1 2-1.1 1-5.3 1-2.1 1-0.8 2,6.3 3,3.5 1-1.9 1-0.7 1,1.6 2-3.8 2,1.5 1-0.2 2,0.9 1,1.9 1-2.3 1,3.2 1-2.3 1,0.1 2,1.9 1-1.1 1-0.3 1,1.2 1-0.9 3,0.7 1-1.6 1,1.9 1-2.3 1,1.5 2-4.2 1-3.9 3-3.5 1-2.1 2,5.6 2,2.6 3-7.7 1,0 3,9.4 1,0.9 2,3.8 1-1.4 1,1.8 1-2.3 1,1.6 1-0.6 1,0.8 1-2.8 2-0.1 1,1.4 1-0.9 1,0.7 1-1.9 1-0.3 2,0.1 2,2.5 1-0.5 1,1.9 1-1.9 1-0.1 1,1.5 1-1.2 1,0.2 1,2 2-2.7 1,1.5 1-0.9 1-0.2 3,2 1-1.8 1,0.4 1-1.6 4,3 1-1.5 1,0.5 3-0.7 1-0.9 2,1 2-0.8 1,1.1 1-1.7 1,1.7 2-1.2 2,1.4 4-3.7 1-2.5 1,0.4 2-0.3 2,4.2 1-0.3 1-2.7 2-2.4 1,2.4 2,1.8 1,1.8 1-0.2 1,2.7 1-1.7 2-0.7 1,2.4 1-4.1 1,0.7 1-1.2 1-3.9 2-1.6 1-3.2 4-26.6 1-0.7 1,4 3,27.7 2,6.2 2,0.5 1,0.8 3-0.5 2,1.7 1-1.7 1,1.9 2-1.5 1,0.7 1-0.4 2-7.6 3-35.9 1-9.2 1-3.4 5,47.6 1,4.6 3,4.6 3-0.7 1,1.1 2-1.5 1,2.1 1-0.3 1-2.2 1,1.9 1-3.9 1-0.4 1-3.5 1-0.5 2,1.7 1,2.4 2,2.1 1-0.5 1-2.1 1-4.9 2-13.5 1-0.1 1,0.9 3,17.5 2,5.3 1-0.5 1,0.6 1-0.9 1,0.2 1-1.2 1,0.6 2,0.1 1,0.7 1,0.1 1-0.8 1-0.1 2,1.2 2-0.7 2,1.5 2-1.3 2,0.4 1-1.1 1,2 1-0.2 2-1.8 1,0.6 2-10.6 2-17.7 1-2.4 3,24.2 1,4.7 4,3.4 1-0.9 1,1.1 2-1.9 1,0.9 2-0.1 2-4.9 2-9.7 1-1.1 1,0.7 1,6.8 3,9.4 1-1.7 2,1.7 1-1.3 1,0.8 1-0.3 1,0.8 7-1.2 2,0.9 2,0.1 2-1.5 1,0.8 1-1.7 1,1.8 2,0.1 2,0.9 3-1 1,1.6 1-1.7 1,0.7 4-0.8 2,0.6 1-3.2 1-1.3 2-13.2 2-9.4 4,22.4 2,4.7 2-0.4 1,1.1 1-1.1 1,1.4 1-1.2 1,0.8 5-0.4 1-1.3 1-3.7 1-15 1-52.4 2-214.1 1-21.2 3,247.1 1,30.4 1,13.6 2,13.2 2,4.1 4-0.9 1-2.6 1-0.2 2-8.7 2-13.4 2-7.6 1,2 4,23.9 1,3 2,3.5 4,0.3 1-1 1,1.3 1-0.8 2,1 2-1.1 1,0.8 2-0.1 1-0.9 1,0.2 1,1.6 3-6.9 3-12.4 1,0.7 4,15.6 1,1.3 1,0.4 2-0.3 1,0.6 1-1.2 1,1.2 1-1.4 3,1.4 1-1 1,1.3 3-0.7 1-0.8 1,0.8 1-1.3 2,1.7 1-0.9 1,0.6 1-1.9 3-12.2 3-31.3 1-6.5 1-1.2 5,42.2 1,4.9 1,1.1 1,3.3 1-0.2 1,0.5 3-0.9 1,0.6 3,0.2 1,0.7 1-0.4 2-5 3-13.7 1-2.4 1-0.4 1,0.8 3,14.6 1,2.7 1,0.3 1,2.8 2-2 1,1.8 3-0.2 1,0.5 1-1.1 3,2.2 1-1.1 3,0.1 2-3.3 2-1.2 2-5.7 1-0.1 2,0.7 1,3 2,2.9 1,3.1 1-2.1 2,1.7 2-3.2 1,1.3 1,0 1-1.4 1,1.7 1-0.8 2-0.2 2-1.8 2,1.8 1-0.3 1,2.2 1,1 1-0.9 1-0.1 1,0.8 1-1.3 1,0.8 1,0 1-1.3 1-0.3 1-2.4 1-4.9 2-20.5 2-33 2-22 1,6.7 4,55 1,8 1,3.8 1,0.6 3-23.6 1-13.7 1-7 1-3.1 1,1.2 2,14.9 1,15.1 2,18 1,2.2 1,5 1,1 1-1.2 1,2.3 1-0.3 2-3.4 1-0.7 3,1.3 2,0 1,0.8 2,0.4 1-2.6 2-6.9 2-15.2 1-12 1-4.4 2-17.7 2-12 1,5 1,1.3 1,5.8 1,3 3,30.3 1,2.3 1,7.8 2,2.6 2-7.1 4-31.7 3-11.2 1-0.8 1,4.6 1,9.2 1,3.7 1,10.4 3,21.6 2,7.8 3,4.2 1-2.1 1-0.8 1-4.6 1-1.2 2-10.1 1-0.3 5,17.6 2,3.4 2,0.9 1-3.2 2,3.5 2-0.9 1,0.5 2-2.5 1,4.3 1-2.9 2,2.4 1-0.9 1,1.8 2-3.2 2,2.4 2-3 1,0.1 1,2.5 1-0.4 1,0.1 1-1 1,0.6 1-1.1 1-0.2 1,1 2-2 1,0.8 1-2.3 2-2.8 2,1.2 3,4.7 2-0.8 1,2.1 1,0.1 2-0.9 1,1.2 1-1.4 1,0.9 2-0.7 2,0.7 1-1.1 2,1.2 1,1.3 1-3.3 1,1.9 2-0.7 1,1.3 2-2.4 1,1.2 1-0.6 1-2.6 1,1.8 1-1.8 4-10.3 2-10.1 1-1.1 1-4.3 1-0.1 2,3.4 1-0.3 3,15.8 1,1.7 2,7 1-0.3 1,1.7 1-0.3 3,1.8 1-0.1 1-1.1 1,0.1 1-2.7 1,1.7 2-1.8 3-5.3 2,3.8 1-1 1,1.4 1,0.4 1-1.8 1-0.5 1-5.2 1,1 1-2.6 1,1.6 1,0.5 1,2.7 1,0.5 1-0.2 1,2.2 2,1.1 2-0.9 2,3.8 2-3.6 2-11.5 1-2.5 1,1.4 3,15.1 1,2.3 2,1.4 1-2.2 3-14.2 2,3 2,9.9 1,3.1 1,0.9 1,0.1 1-0.8 1,1.1 1-0.8 1,0.8 1-1.1 1,1.3 2-1.2 2,1.9 2-1.8 1,1.9 1-1.4 1,1.1 1-0.2 1,0.7 1-1.8 2-0.1 1-1 1,1.6 1,0 1-0.9 1,1.5 1-0.6 1,0.6 1-1.4 1,0.1 3,1.8 2-1.4 1,0.9 1-0.5 1,0.4 1-1.4 1,1.3 1-1.3 1,1.2 2-1.1 2,0.5 4-10.8 1-1 1,1.4 2,6.7 2,3.7 3,1.2 2-5 2-21.1 3-103 1-2.8 1,14.8 1,43.6 2,51.2 1,14 1,5.2 1,2.2 1-0.6 2,0.4 1-0.6 1,1.5 2-0.8 1,0.7 1-0.8 4-0.8 2,2.3 1-1.7 1,1.1 1-0.7 1,0.5 1-0.2 1-1.1 1,1.4 1-0.1 1-1 3,0.4 1-0.7 2,0.7 1-0.6 2,2.1 1-1.3 1-0.4 2,0.9 1-1.3 1,0.5 1-0.4 3,0.5 1,1.1 2-2.2 1,0.3 1,1.2 2-1 1,0.8 1-0.6 1,0.4 3-5 3,3.5 1,0.2 1-0.5 2,1.9 1-0.2 1-1 1,2.2 1,0.8 1-1.9 1,0.8 2-1 1,1.2 1-1.6 2,1.1 1-0.9 1,0.5 1-0.8 1,1.6 1-0.5 1-1.9 1,1.7 3-1.6 2,1.6 3-1.2 1,0.3 1,1.2 1,0.2 1-1.7 1,1.8 1-0.6 1,0.2 1,1 1-0.3 1,0.7 1-0.5 1,1.2 1-0.4 1,0.6 1-0.3 4,1.2 1,0.7 4-0.1 1,0.4 3-0.7 2,0.5 5,0.1 1-0.4 3,0.4 3-0.6 1,0.6 3,0.1 3-0.6 1,0.5 3,0.2 2-0.6 3,0.5" stroke="#ff7f0e"/><path d="M291,572.9l3-9.7 1,0.1 3,9.6 2,1.1 42,0.4 1-0.7 1-2.6 3-26 1,5.3 2,20.1 1,3.3 1,0.6 4,0.2 1-0.4 1-2.1 1-7.6 1-23.5 3-173.7 2-46.7 1-13.5 1,19.7 1-23.3 1-12 1,11.4 1,38.3 1,6.8 1-1.8 1-11.3 1,39.4 1-25.5 1-12.1 1,58.3 1,12.2 1,0.9 1-5.4 1,14 1-5.3 1,14.1 1,5.3 1-4.6 1,22.9 2,25.8 1-2.5 1-10 1,13.7 1-7.9 1,25.1 1-3.8 1,5.5 1-3.5 1,15.3 2-7.8 1-1.2 1,1 1,13.1 1,0 1,5.1 1,1.6 1-3.3 2,17.6 1-11.9 1-3.6 1,16.7 1-5.8 1,2.4 1-2.9 2,3.7 2-1.5 1,1.8 1-4.3 1-1.6 1,2.5 1-1.4 1,1.7 1,4.3 1,0.1 1-3.6 1,4.8 1-0.4 1,1.1 2,4.7 1,6.4 1,0.4 1,2.7 3,4 1,3.1 1,0.4 1-0.3 2,1.1 1,1.5 2,1.4 1-0.2 1,0.6 1,1.4 4-0.3 1-1.4 2,2.7 1-0.6 3,2.1 1-1.7 2,1.7 1-1.6 2,2.3 2,0.2 1,1.2 1-2.4 1,1.8 2,0.8 1-1.9 1,1.8 4-0.9 1,1.4 1-0.7 1,1.5 3-1.2 1,1.4 1-0.3 1,1.3 3-1.5 1,1.7 4-0.7 1,0.7 2-1 1,0.3 1,1.6 1-1.3 3,0.6 2-0.4 1-0.4 1-1.3 2-4.8 2-12.3 4-49.6 2-21.2 1-5.5 1,0.9 1,3.7 2,21 3,43.2 3,20.1 1,3.6 2,3 2,0.4 1-0.5 2,0.2 2,1 1-0.4 1,1.3 8-0.4 1,0.7 2-0.6 2,0.4 3-0.3 2,0.7 2-1.4 1,1.3 3-0.6 1-1.9 1-2.8 1-6.2 1-10.5 4-55.4 2,11.2 3,46.3 2,15.7 1,2.1 2,2.3 2,0.3 5-0.6 1-1 1-2.8 1-5.2 2-14.5 1-1.5 3,18.8 1,3.7 1-0.1 1-1.9 3-13.5 1,3.1 2,11.4 1,2.7 1,0.5 2-4.7 3-13.8 1-1.1 3,12.6 2,6.1 2,1.9 5,0.3 2-0.3 2,0.7 2-0.5 1,0.3 1-0.5 2,0.2 1-0.5 2,0.7 1-0.5 4,0.5 1-0.4 2,0.3 6-1 2-4.9 2-8.1 1-0.1 3,9.9 1,1.9 1-0.2 4-13 1,0.9 3,9.1 2-9.7 1-2.1 3,16.1 1,1.2 1,0.1 2-0.8 1-1.8 1-2 2-7.8 1-1.7 1,1.3 3,9.5 1,1.4 1,0.2 1-0.4 1-1.4 2,0.1 1,2.4 1,0.2 1,0.9 2-0.7 1,0.4 1-0.2 1,0.7 2-0.5 2,0.3 3-0.8 2-3.5 2-7.9 1-0.6 3,5.8 1,0.7 3,5.3 3,0.6 6-0.4 2-1.2 2,0.2 1,0.8 2,0.5 8-0.2 1-0.7 1-1.8 2-5.2 1-0.2 3,6 2,1.9 4,0.1 1,0.5 2-0.9 1,0.8 1-0.6 1,0.7 1-0.6 4-0.1 1-0.9 1,0.8 6,0 1,0.7 2-0.9 1,0.5 1-0.2 1,0.8 5-0.7 1,0.5 1-0.8 5,0.8 3-0.6 1,0.9 1-1 2,0.6 3-1.2 1-0.9 2-2.7 1-2.7 2-0.7 2,5.4 1,1.5 2,1.3 1-0.6 1,0.6 2-0.9 2,0.7 1-0.7 1,0.7 5-0.2 1-0.4 1,0.6 1-0.2 2-1.5 1-1.8 1,0 1,1.2 1,0.3 2-0.2 1,0.6 2-6.9 4-49.9 1-6.5 1,8.9 2,30.9 2,18.6 1,4.4 3,2.1 4-0.3 1-0.5 1,0.5 2-0.1 1,0.4 1-0.8 1,0.6 1-0.7 1,0.4 2-0.9 1,0.3 1-0.7 1,0.7 2-0.6 1,0.1 1,1 1-0.4 1,0.4 2-0.3 3,0.8 1-0.1 1-0.9 1,0.9 1-1.5 3-1.5 2,2.2 1,0.2 3-0.3 4,0.7 1-0.3 2,0.2 1-0.6 2,0.7 3-0.6 1,0.7 1-0.7 3,0.2 1-1.1 2,1.2 3-0.2 1,0.3 1-0.2 1-0.9 1,0.4 3-6.9 1-0.3 2,5.7 1,0.7 1,1.6 3,0 1,0.6 1-1 1,0.4 1-0.5 2-0.1 1-0.5 1-2.6 3-4.2 4,6.7 3,1.5 2-0.6 2,0.3 1-0.9 1,0.3 2-2.9 1-3.6 2-14.2 2-8.2 2,9.3 2,13.2 1,3 2,2.8 1-1.6 1,1.3 1-1 1,1.4 1-0.8 1,1.5 1-0.3 3,1 3-1.8 2-4.7 2-12.7 1-4.7 1-2.5 1,3 1,6.7 3,13.6 2,2.6 3-0.4 1,0.5 3-0.2 3,0.9 2-1.1 1-1.3 1,0.2 3-1.7 6,3.2 1,0.3 1-0.7 2,0 2-1.5 1-2.9 1-1.4 1-4 2,0.7 2,4.3 1,0.3 1-2 1-3.2 3-26.6 1-4.3 1-1.7 2,12.3 2,18.9 1,5 2,6 2,0.2 1-0.5 3-7 4-11.4 2-4.4 1-0.7 4,21.3 2,3.1 2-0.4 1,0.7 2-0.6 1,0.6 1-0.6 3,0.7 2-0.5 1,0.4 2-0.4 1,1 2-1.2 1,0.3 1-0.4 2-3 3-6.5 1,0.1 1,1.2 4,6.6 1,1 2,1 2-0.1 3,0.8 1-0.3 3-1.8 2-2.5 1,0 1-1 1,0.5 1,2 1,0.4 1,1.3 1,0.1 1-0.4 1-0.8 2-7.4 4-28 2-1.9 1,5.3 2,17.7 2,11.3 2,4.3 1,0.7 2-0.1 1,0.7 3-0.8 1-1.2 2-5.5 1-6.3 4-47.7 1-5.3 1-0.3 3,32.9 3,13.9 2,13.6 1,3.7 1,1.2 1-1.5 3-8.9 1-0.5 1,0.5 4,11.1 1,0.7 2-1.5 2-4.7 3-19 1-2.6 1-6.3 1,1.4 5,28.3 2,3.6 1,0.9 1-0.3 6,1.1 1-0.8 2,0.7 3-0.9 2,0.3 1,0.7 2-0.7 3,0.2 1-0.4 2,1.2 1-0.8 2-0.6 3-5.5 2-7.7 2-1.6 1,1 2,7.6 1,2.5 1,1.2 1-0.7 1-2.2 1-4.8 4-33.2 1-5.7 1-1.4 2,12.1 3,26.4 1,5.4 2,5.2 1-0.8 2-5.6 2-12.8 1-2 1-4.2 1,2.5 3,17 2,5.8 1,0.4 2-3.7 2-6.7 5-36 1-11.5 1-4.1 1,1.9 1-1.6 1,4.1 3,31 2,13 1,3.4 1,0.5 1-3.8 1-7.1 2-29.5 3-61 1-11.5 1-6 1,12.2 1,1.8 4,77.8 2,22.5 1,7.4 2,6.4 2,1.4 2-1 4-6.1 2,1.2 2,3.4 3,2.9 3-0.7 3,1.2 2-0.2 3,0.8 2-0.5 2,0.3 5-0.4 1,0.5 2-0.5 2,0.4 2-0.6 2,0.9 1-0.7 4,0.4 2-0.6 3,0.5 3-0.6 4,0.4 1-0.5 1-1.3 1-3.7 3-19.2 1,1.2 3,13.5 1,0.1 2-2 2,3.1 1,3.6 2,3.4 2,1.7 3-0.9 2-3.1 1-3.7 5-35.5 1,1.3 1-2.6 1,0.2 1,3.8 1,8 1,0.7 2,10 3,8 2,6.9 2,4.5 3,2.1 2,0 1,0.5 3-0.8 3-0.1 2-1.2 3-3.1 1-0.3 4,2.2 1-1.2 2,0.5 1-1 3,1 2-2.5 3-9.8 1-0.8 1,2.4 1,0.3 1-1.7 2-7.6 1,0.2 5,21.2 2,1.9 1,0.1 2-0.7 2,0.6 1-0.3 2,0.4 3-0.7 1,0.8 2-0.7 2,0.5 5-0.8 2,0.6 3-0.1 1,0.7 1-0.8 1,0.4 1-0.8 3,0.6 1-0.7 1,0.6 3-0.4 1,0.6 1-0.8 1,0.7 3-0.5 4,0.3 1-0.8 1,1.1 1-0.9 4,0.3 2-2.3 3-5.2 1-0.3 1,2.5 4,5.4 1-0.5 3,0.1 1-0.7 2-9.2 4-61.2 1,2.9 3,52.1 2,14.1 1,1.5 1,0.3 2-0.5 1,0.9 1,0.2 1-0.5 4,0.1 1-0.6 1,0.8 1-0.7 3,0.6 1-0.6 9,0.4 1-0.5 2,0.5 1-0.6 1,0.1 1,0.7 1-0.8 1,0.5 1-0.6 3,0.7 1-0.5 1,1.1 1,0.1 1-1 2,0.2 1-0.9 5,0.9 1-0.3 1,0.5 2-1.2 3-10 1-1 3,9 1,1.8 1-0.1 1,1.5 1-0.5 3,0.5 1-0.6 1,0.5 1-0.5 7,0.4 1-0.5 3-0.2 2,1.2 1-1 1,1.3 1-1 1,0.4 1-0.6 1,1 2-0.7 2,0.5 1-0.4 2,1.4 1-1 1,0.3 2-0.2 3,1.3 3,0 3,0.9 38,0.2" stroke="#2ca02c"/><path d="M291,572l1-2.2 2-8.5 1,0.7 3,10.2 1,1.2 2,0.2 1-0.4 1,0.6 1-0.3 3,0.6 1-0.6 3,0.4 1-0.5 2,0.1 1,0.5 1-0.5 3,0.4 3-0.7 2,0.6 7,0.1 1-0.3 2,0.6 7-0.5 1,0.4 1-1.4 1-5 2-30.2 1-2.6 2,28.7 1,7.7 1,2.9 6,0.2 3-0.9 1-3 1-11.2 1-30.8 2-126.6 2-64.5 2,25 1-14.5 1,2.3 1-13.2 1,13.6 1-17.9 1,13.7 2,53.9 1-9 2,12.7 1,15.2 1,6.4 1-16.6 1,31.3 1-11.9 1,16.9 1-22 1,36 1-5.1 1,3.3 1,15.9 1-0.3 1-5 1,18.7 1-0.8 1,10.1 1-15.2 1,13.9 1,0.8 1,2.7 1-6 1,21.2 1-3.2 1,6.2 1,1.7 1-6 1-1.8 1,14.9 1-10.5 1,10.9 1,1.1 1-7.8 1,7.4 1-6.8 2,6.3 1-4.6 1,1.8 1-1.7 1-5.1 1,4.2 1-7.1 1,3 1-2.4 1,0.9 1,3.4 1-2.8 1,4.5 1-1.2 1,0.8 1,3.1 4,19.8 1,3.8 1,0.3 1,5.2 3,1.8 1-0.4 1,2.3 2,0.8 1,1 1-1.1 2,2.6 1-1.2 1,1.5 1,0 1-1.3 1,0.6 2,3.8 1-1.4 1,0.7 1-0.4 2,1.9 1-0.6 1,0.3 1,1.3 1-0.7 1,0.3 1-0.9 1,0.5 1,1.5 2-1.4 3,1.4 2,0.2 1,0.8 1-1.8 1,3.3 1-1.9 1,0.7 1-0.9 1,1.8 1-0.9 1,1.4 4-0.7 3,0.9 1-1 7,2 2-0.7 1,0.8 2-0.5 4,0.3 2-2.6 1-0.5 3-16.3 4-53.7 2-18.1 2,11.8 5,59.2 3,17.3 2,3.5 2,0.5 1,0.8 1-0.3 1,0.8 1-1 1,0.3 3-2.5 2-0.6 1,0.4 1,1.8 2,0 2,1 1-0.1 1-0.2 2-1.4 1-2.2 2,2.5 1,0 1,1.2 1,0.2 1-0.5 1-2 1,0 1-2.4 1-1.2 2,0 2-7.8 1-8.3 4-49.2 1,2.4 1,10.3 3,43.4 1,8.1 1,4.8 1,2.1 3,1.8 1-1.1 1,0.4 3,0 2-0.5 3-10.9 1-1.1 2,5.3 1,4.5 1,1.4 1-0.3 1-4.5 3-44.1 1-5.5 3,40.6 1,7.7 1,0 1-11.8 1-29.4 3-117.3 1-3.6 4,145.8 1,15.5 1,6.4 1,1.8 3,1.4 4-2 2-2.6 1,0.4 1-0.4 1,0.6 2,2.5 1,0.4 1-0.1 4,1.4 1-1.2 1,1.3 1-0.7 1,0.2 1-1.1 1-5.4 2-18.4 1,0.8 2,16.8 1,3.8 1-0.9 2-5.3 1-0.3 1-1.9 4,10.3 1,1.1 1,0.3 2,0.3 2-0.3 1,0.6 2-0.6 3,0.4 1-0.5 1,0.6 3-1.1 2-2.7 3-9 1-2 1-0.6 4,12.6 3,2.8 2-0.4 2,0.7 2-0.6 3-4.1 2-5.1 1-0.5 1,1.3 2,4.5 3,3.8 2,0.1 1-0.7 2-0.2 2,0.2 1,0.7 1-0.3 1,0.7 3-2.9 3-0.6 3,2.8 4,1.2 1-0.6 1,0.3 7,0 1-1.2 1-0.3 3-3.6 2,0.1 1,1.7 1-1.3 1-3.6 2-18.8 1-3.1 3,25.5 1,3.7 3,1.2 4-1.3 1,1.3 3-2.2 2-4.3 1-1.1 1,0.9 2,4.8 3,1.7 2-0.4 2,0.5 2-1.6 1,0.2 2-1.7 1-0.3 5,2.7 2,0 1-0.6 1,0.9 1-0.7 1,0.8 1-0.4 1,0.5 1-1 3,0.9 2-0.6 3,0.5 1-1.2 1,0.8 2,0.3 1-0.3 5-9.1 1-3.8 3-20.2 1,1.3 1,3.5 1,5 2,5.7 3,15.4 1,1.3 2,1.3 2-0.9 1,0.9 1-0.5 1,0.4 1-0.7 2-0.1 2-3 2-9.6 2-14.2 1,0.8 3,19.2 2,6 1,1.1 3-0.3 1,0.9 2-0.9 2,0.8 1-1.1 2,1.2 1,0 1-1.1 1,0.5 1-0.8 1-1.6 1-3.6 3-27.8 1-3.9 2,11.5 2,19.8 1,4.3 1,1.5 3,0.9 1-1 1,0.6 2,0.3 1-0.7 1,0.1 2-2.4 1-3.4 1-1 1-3.6 3,5.9 3,3.6 2,0.1 1,1.3 2-0.6 2,0.7 1-0.9 2,0.8 1-0.7 2,0.9 1-1.1 1,0.6 1-0.6 2,0.9 2-0.6 1,0.3 1-1 2,1 1,0 1-0.9 1,0.3 1-0.2 1,0.7 3-0.9 1,1.2 2-0.8 2,1.1 2-0.9 1-1.1 1-1.7 1-4 1-8.2 3-40.5 1,1.6 3,39.3 1,7.5 1,4.2 1,1.6 1,0.8 1-0.3 4,0.5 1-1.3 1-0.1 1-4.6 2-18.5 2-29 1-8.1 4,52.8 1,5.9 1,2.6 1,0.3 2-1.1 2,1.3 2-0.8 2,1 3-0.5 1-0.6 1-2.1 2-8.8 3-29.9 1-2.8 1,4.5 3,30.3 2,8.2 1-0.2 1,2 1-0.5 1,0.1 1-0.9 1,1.2 1-0.6 1,0.8 2-0.5 3-3.5 2-10.8 2-15.5 1,1.5 1-0.6 3,20.7 1,4.7 2,3.6 2,0 2-1.1 1,1.3 1-1.5 1,1.5 1-1 2,0.2 1-0.6 1,1.1 2-1.8 1-2 1-5.3 1-8.3 3-39.5 1-5 1-1.2 4,49.8 1,6.8 2,5.2 1,0.6 1-0.7 2,1.4 1-0.4 1-1.2 1,0.2 2-1.5 1,0.2 2-0.7 1,0.1 3,1.7 2,1.9 1-0.9 1,0.5 1-1.3 2,1.2 4-7.1 1-0.9 1,2.6 1-0.1 2,4.1 1,0.5 2-0.3 1-1.4 2-5.1 1-7 1-3.2 1-1.3 1,2.3 3,14.1 2,2.3 1,0.1 1-0.6 2,1.2 1-0.9 1,0.6 2-1 1,1.2 2,0.3 1-1 2,0.2 1-1.1 1,1.7 4-0.5 1-1.1 1,1.2 2-2.7 6-17.6 1-0.4 1,0.2 4,13.6 2,2.4 1,2.6 1,0.1 1,1.5 1,0.6 1,0.3 1-1.5 2,1.7 3-2.7 2-4.6 2-8 2-14.4 1-1.9 1,0.7 1,1.7 3,18.1 1,3.3 3,6.8 1,0.5 1-0.9 2,0.4 1,0.8 1-0.6 2,0.3 1-1.6 2,1.8 3-1.3 2-3.2 3-8.3 2-8.1 1,0.2 2,4.7 2,9.6 3,5.6 1,0.2 3-0.9 3-6.6 2,2.8 1,2.7 2,2.5 2-0.6 4-0.1 2,1.2 1-0.9 1,0.4 2-0.5 1-0.5 3-9.7 4-36.7 1-5.8 1-2 3,22.4 2,20 1,5.8 1,2 1-0.1 1-2.5 1-6 3-36.2 1-5.2 1-1 1,6.9 3,34.3 1,8 1,4.1 2,2 3-2.1 2-6 2-2 1,1.2 3,6.9 3,2.8 2-1.8 3-6.8 6-31.2 2,1.9 1,4.7 1,2.3 2,12.2 3,10.2 1,0.4 1-1.5 1-3.7 2-12.5 3-26.9 2-12.5 1,1 1-3 4,36.1 3,19.9 1,4.5 2,4.9 1,0 1,1.1 2-1.9 1,0.1 1-2.4 1,0.3 2-0.5 2,1.1 2,3.2 1,0.2 1,1.1 1-0.3 1,0.6 1-0.5 1,0.3 1-0.7 2,0.5 1,0.7 3-1.2 2,0.6 1-0.8 2,1.6 1-1.5 1,1.7 1-1 3,0.2 2-1.4 2-2.5 1-0.3 2,2.9 1,0.7 1-0.1 2,1.3 1,0 1-0.6 2,0.4 1-1 2,1.1 2-0.6 1-0.5 2-2.7 4,3.3 3-0.4 1,1.4 1-1.1 1,0.9 2-0.8 3,0.2 1-0.5 3-7.5 1-0.4 1,1.2 2,4.8 1,0.2 1-0.3 3-4.7 3-9.5 2-2.4 2,0.2 1,1.5 7,15.9 4,2.2 1-1 2-0.5 2-3.8 1,0.2 4,4 2,0.8 1-0.1 1-1.1 1-0.3 2-4.1 3-12.3 2-12.5 2-3.4 1-0.2 2,10.3 1,1.2 1,4 1,1.5 1,0.6 1-2.2 2,1.1 1,1.9 1,6.5 1,3.3 1,1.6 1-0.1 2-1.7 5,5.8 1-0.5 3,0.6 2-0.6 1-1.1 3-6.6 1-0.4 3,6.8 1,1.2 2,1 2-0.8 2,0.7 1-2.6 1-0.7 1,0.8 1-1.1 1,1.1 3,0.9 4-1 1,0.7 1-1.6 1,1.5 4,0.3 1-1.6 2,0.6 1,1.7 1-1.9 1-0.4 2,1.4 1-1.6 1,1.4 1-0.9 1,0.9 2-1.4 1,1 1-0.7 1-0.1 1-2.1 1-0.9 2-4.5 1-0.2 1,0.2 1,3.2 1,0.3 1,3.9 2-0.3 1,0.8 1-0.7 2-5.6 2-27.3 2-37.8 2-9.6 2,41.8 2,30.9 1,5.4 2,2.7 4-0.3 1,0.6 2-0.9 2,1.3 2-1.3 2,1.3 1,0 1-0.2 1-1.5 1,1.1 1-0.8 1-0.1 2,0.3 1,0.8 3-0.3 1,1 1-2 4,2.1 1-1.8 1,0.9 2-0.7 1,1.1 4-1.6 1,0.7 2-0.5 1,1.2 1-0.8 1,3 1-1.2 1,0.9 4-0.2 1,0.9 1-1.1 3-1.7 1,0.6 1-0.2 1,1.2 4,0.7 1-0.5 1,0.5 1-0.5 2,0.1 1,0.6 2-1.2 3,0 1,0.7 2-0.8 3,0.3 1,1.2 2-1.4 1,1.1 2-1.5 4,1.3 2-0.6 2,0.9 3-0.3 2,0.8 1-0.5 2,1.1 2-0.1 4,1.1 2-0.4 2,0.4 2-0.3 11,0.5 1-0.4 1,0.3 20,0" stroke="#d62728"/><path d="M291,573.3l3-9.9 3,9.7 1,1.6 1,0.3 34,0.3 9-0.5 1-1.4 1-4.2 2-13.3 1-0.1 3,17.4 1,1.6 1,0.4 4-0.3 1-1.3 2-12.1 1-19.4 3-101.3 2-46.8 2,21.5 2-43.2 2,27.6 1-9.2 1,30.8 1,3.4 1,23.4 1-26.4 1,5 1,16.1 1,7.4 1,3.1 1,0.1 1,19.9 1,4.4 1-15.6 1,31 1-15.8 1,13 1-2.5 1-5.4 2,15.1 1,13.8 1,5.1 1-5.5 1-2.6 2,15.9 1-3.9 1,3 1,10.2 1-9.1 1,7 1,2.6 1-2.9 1,0.3 2,3.9 1,6 1-3 1,0.6 1,8.5 2-7.9 1-1.1 1-2.9 1,4 1-5.5 1,4.4 2-4.3 1,0.1 2-5.5 1,4.2 1-1.3 1,1.3 1,0.3 1,2.8 1-0.3 4,11.8 4,8 2,0.8 2,5.3 2-0.8 1,2.9 1-0.2 1,1.2 1-0.4 1,1.2 2,0.3 1-1.3 2,1.4 1-0.3 1,1.4 1-1.2 2,1.9 2-0.7 1,1.5 2-0.7 2,0.8 1-1 1,1.6 3-0.7 1,0.7 4,0.7 2-0.2 1-0.7 1,1.7 1-0.8 2,0.8 1-0.7 1,0.7 2-0.4 1,0.9 1-0.8 2,0.7 3-0.8 5,1.4 2-0.4 1,0.3 1-0.6 1,0.5 2-0.3 1,0.5 4-0.7 2-1.4 2-3.7 2-6.3 4-18.3 2-3.6 5,16 3,4.8 3,9.7 2,3.4 3,1.3 14,0.2 1-0.3 4,0.6 1-0.3 4,0.4 6-0.8 1-1 1-2.5 1-6.3 2-23.6 1-19.5 2-19.8 1,1.3 4,56.4 1,8.5 1,4.3 1,1.7 2,1.4 5,0 2-1.4 1-2.2 3-21.5 1-4 2,13.8 2,5.9 1-1 3-19.4 2,7.8 2,16.6 1,2.5 1-1.8 1-8.6 3-83.1 1-21.3 1-5.5 3,93.4 1,18.9 1,7.7 1,2.5 1,0.6 10,0.2 4-2.4 1-0.1 6,2.2 5,0.6 3-0.6 1-1.2 1-2.6 3-20.6 1-1.8 1,1.8 1,4.6 2,14 1,3.7 1,1.7 2,1.2 1-0.4 4,0.4 6-0.4 4-2.2 2-3 1-3 4-18.3 1,1.9 4,20.9 1,2.3 2,1.5 6,0.5 8-0.2 2-0.7 1-1.4 1-4.1 2-14 1-3.5 1,2.5 3,18.7 1,1.8 1,0.6 16,0.1 2-0.4 2-1.1 4,1.7 2-0.7 2-2.2 2-1.1 6,3.4 2,0.5 3-0.3 2-1.2 2-3.2 1-0.3 2,2.8 1,0.6 2,0.1 5,1.5 12,0 5-1 6,1 15,0.1 2-0.7 1-0.9 3-6.1 1-1.1 1,0.3 3,6.2 2,1.9 2,0.6 4-0.4 1-0.7 2-3.4 1-0.3 1,0.7 2,3.2 2,0.6 1-0.2 1-0.8 2-7.1 2-20.4 1-16.7 1-8.9 1-1.8 1,5.2 3,35.5 1,2.6 1-0.9 1-4.5 1-1.6 2,5.8 2,9.5 1,2.7 1,1.3 1,0.3 5,0.2 3-1.1 2-3.3 2-4.9 1-1 2,0.8 1-0.2 2,3.9 1,0 2-5.1 1-0.1 3,7.9 1,1.3 2,1.4 2,0.3 2-0.2 4-2.3 2,0.4 3,1.9 4,0.5 23,0 6-0.5 1-0.8 1-2.3 1-4 3-17.7 1,0.8 1,3.5 3,15 2,4 2,1.6 1,0.2 5,0.2 2-0.7 1-1.2 1-2.4 1-4 1-6.3 2-21.9 1-6.7 1-3.4 2,15.2 1,12.2 2,11.3 1,1 2-2.7 1,0.3 1,1 3,6.2 1,1 1,0.6 3,0.5 2-0.9 1-1.2 1-2.2 4-14.7 2,4.9 2,7 1,1.5 1,0.5 1-0.3 5,4.8 5,0.5 1-0.2 1-0.8 1-1.5 3-11 1-1.9 1,1 1,2.3 2,7.9 1,2.4 1,1.2 2,0.5 10-0.1 1-0.4 1-1.3 1-3.5 1-7.2 1-15.4 4-95.8 1-2.1 1,17.5 2,59.1 2,37.2 1,7 1,3.2 2,1.7 3,0.2 8-1.2 7,1.2 16-0.1 3-1.4 2-2.6 1-0.3 1,0.2 3,2.4 1-0.4 4-10.2 1,0.5 3,9.2 1,1.6 3,1.1 12-0.3 2-1.2 1-1.3 3-7.8 2-3.9 2,2.1 3,7.8 2,3.4 3,1.1 5-0.4 2-1.5 2-5.4 2-14 3-28.9 1-1.7 1,0.8 1,4.4 4,35 1,5 2,5.2 2,0.9 6-1.4 3,1.1 2-0.6 1-1.5 2-6.7 4-22.2 1-1.7 2,6 3,18.5 3,7.5 3,1.4 7,0.3 13-0.3 2-0.5 1-0.6 1-2 2-11.7 4-62 1-8.1 1-0.4 1,9.5 3,53.3 2,12.5 1-4.1 1-8.4 4-57.3 2-0.8 3,49.5 1,12.1 2,13.8 1,2.7 1,0.4 1-1.3 4-19.2 2,1.6 2,11 2,7.9 1,0.9 1,0.2 2-1.3 1-1.8 2-6.2 5-34.8 2-9.7 1,0.8 1,5.3 1-0.2 4,30.5 2,6.4 1,0.5 1-0.6 1-3.5 1-7 4-51.3 2-15.8 1-4 1,1.5 1,3.4 5,63.6 1,8.7 2,9.2 1,3.2 1,0 1-1.2 1-3.2 3-19.4 1-1.7 2,4.1 1,8.6 2,10.8 2,4.6 2,1.2 3,0.2 1-4.2 1,2.1 1-1.5 1,0.5 1-1.5 1,0.9 4-0.4 2,1 1-0.6 1,1.2 1-0.3 1-2.4 1,0.1 2-3 3,5.6 2-1.1 1,0.8 1-1 1-2.1 1,3.1 1-1.5 1,0.9 1,0 2-1.3 2,0.8 1-0.8 2,0.9 1-1.7 2,1.9 1-1.9 1,1.6 2-1 1,2.4 1-1.5 2,0.5 1-1.3 2,2.8 1-2.4 1,1.7 1-0.9 1,0.6 1,0 1,1.3 2-2.3 1-0.3 1,1.1 1-0.1 1-1.5 1,1.5 1-1.5 1,1.5 3-4.8 1,0.3 4-5.1 1-0.5 1,0.9 1-0.8 1,2.2 1-0.9 1,2 1,0.2 3,6.7 2-0.9 2,0.9 2-0.4 1-0.2 2-6 1-5.5 2-7 1,2.5 1,5.5 3,9.2 1,0.5 1-0.9 1,0.9 1-3.9 1-1.1 3-14.5 1-1.8 1-3.8 1,2.3 1,0.6 1,5.2 2,3.7 1-2 1-0.2 1-3.2 1-0.5 3,12.2 1,1.8 1-0.8 1-3.8 1-7.7 1-2.2 1,1.5 3,15.5 1,3.2 1-0.3 1,0.9 1-0.5 6,0.5 1-0.4 1,1.6 1-3.3 1,3.1 1-2.8 2-0.2 1,0.9 4,0.5 1,0.7 4-0.3 1-0.7 2,1.2 2-1.3 1,0.8 1-0.9 1,1.4 1-1 2,0.1 2-1.3 1,2.1 1,0.7 1-1.7 1,1.2 1-0.1 1-1.9 1,1.5 1-0.9 1,2.1 1-0.9 1,0 1,3.1 4-0.4 2-2.4 4-11.9 2,4.4 2,6.1 2,3.5 3,0.7 1-0.2 1-0.8 1-2.3 1-4.6 3-27.9 1-3.8 1,5.3 3,26.3 1,4.6 1,2.4 1,0.9 52,0.1 1-0.3 2-1.6 1-1.8 1-0.6 1,0.4 2,2.9 1,0.7 2,0.5 20-0.2 27,0.9 38,0.1" stroke="#9467bd"/><path d="M291,573.9l1-1.8 3-11.5 1,0.8 2,9.9 1,2.2 2,1.1 42,0.4 1-0.9 1-3 2-16.5 1-0.4 2,16 1,3.8 1,0.9 2,0 1-0.3 1-1.3 1-4.4 1-13.3 2-69.4 2-154.8 1,7.1 2-53.2 1,48.9 3-73 1,37.5 1-13.5 1,31.1 1-0.5 2,23.4 1-4.2 1,7.6 1,26 1,8.3 1,39.6 1-32.9 1,42.4 1,17 1,1.7 1-20.1 1,12.2 1-4.9 1,5.2 1,30 1-16.6 1-0.9 1,22.8 1-17.8 1,24.7 1-4.6 1,11.9 1-8.7 2,6 1,10.2 1-0.9 1,11.6 1-10.7 3,20.4 1-3 2,11.6 2-7.1 1,4.6 1,1.3 1,4.8 1-2.7 1-6.4 1,1.9 1,5 1-4.9 3-4.7 1,0.7 1-1.8 1-4.4 2,4.7 1,6.2 1-2.9 1,4.8 1-0.7 2,15.3 1-0.1 1,1.8 2,8.1 1,0.4 1,6.7 1-0.5 1,2.1 1-1.8 1,1.5 1-2.8 1,4.6 2,1.3 1,1.8 1-3.2 3,4.4 1-2.2 2,3.8 1-1.5 2,2 2-1.7 2,2.6 2,0.5 1-0.9 1,0.9 1-0.1 1,0.9 1-1 1,1.9 4,0.8 1-0.5 1,0.3 3-0.5 1,1.2 2-0.2 1,1.2 1-1.1 2,1 2-1 1,1.1 2-0.2 1,1 1-0.6 1,0.8 1-0.4 3,1 1-0.9 1,0.7 5,0.1 1-0.3 1,0.3 2-0.8 1-1.1 2-4.1 2-11.1 2-19.8 4-52.5 1-7.8 1-2.7 1,0.8 1,7.3 1,17.4 5,58.7 2,10.2 3,5.8 5,1.9 1-1 1,0.7 7-0.2 1,0.6 1-0.7 1,0.7 1-0.4 2,0.5 1-0.4 3,0.2 1-0.5 4,0.7 2-0.5 2-1.8 1-3.7 2-16 4-64.7 2-3.8 4,68.6 2,14.9 1,3.3 2,3.3 6,0.2 1-0.9 2-8.3 3-20.6 2,4.2 2,10.2 1,3.1 1-0.3 1-3.7 1-1.1 1,0.6 3,11.3 1-0.9 1-11.1 1-22.9 3-109.2 1,7.2 3,111.7 1,18.8 1,8.7 1,2.4 2,1.6 2-0.4 2,0.3 1-0.5 3,0.7 3-0.7 4,0.6 2-0.4 6,0.3 1-0.4 1,0.5 1-0.7 2,0.6 3-0.9 2-4.6 2-8.7 1-1.8 1,0 1,2.3 2,9.6 2,3 3,1.1 1-0.3 1,0.6 1-0.5 2-2.2 2-4.4 1,0.4 2,4.1 3,2.5 2-1.3 1-3 4-23.4 1-2.9 1,1.4 4,22.2 2,5.1 1,1.1 2,0.7 13-0.1 5-2.8 3,2.4 4,0.5 7,0.1 3-0.4 1,0.4 2-0.2 3-2 1-1.4 1,0.3 1,1.5 3,1.6 1,0.1 1-0.5 1-2.1 2-8.2 2-5.5 3,4.5 1,0 2-1.3 3,9.6 1,2.1 2,1.4 3,0.3 2-0.6 3-2.1 2,0.3 1,1.3 1,0 1,0.8 1,0.2 9,0.4 1-0.6 3,0.7 1-0.4 2,0.2 1-0.7 1,0.7 2-0.6 2,0.7 1-0.4 2,0.5 3-0.8 1-0.8 2-1.8 1-2.3 2-1.7 1,0.4 3,4.4 3,2.2 5,0.2 2-0.5 2,0.7 1-0.3 2-1.5 1-2 3-10.3 2,1.8 3,9.8 2,2.1 1-0.3 1,0.6 2-0.6 2-4.9 3-18.2 1,0 4,19.3 1,2.6 1,1.2 3,0.8 5,0.3 1-0.6 1,0.4 5-0.5 1-1.2 1-3.3 1-8.5 3-58.4 1-2.7 3,57.7 1,10.7 1,4.2 1,1.6 14,0.7 6-1.3 3,0.9 7,0.4 1-0.6 4,0.5 5-0.3 1,0.4 2-0.3 2,0.3 3-0.7 2-3 2-4.7 1-1.6 1-0.3 4,8.8 1,0.9 1,0 3-1.5 3-9.2 1-0.1 1,0.9 3,8.4 3,2.1 1-0.3 3,0.1 2-1.6 1-2.2 2-16.4 3-76.3 1-9.2 1,10.8 3,78 1,10.3 1,4.7 1,1.2 4,0.7 3,0 1-0.5 3,0.6 2-1.8 2-5.7 3-15.3 1-2 4,18.8 2,4.9 2,0.9 2-0.1 2-0.7 1-1.9 3-11 1-0.4 3,11 2,1 1-0.7 2,0 1,0.8 1,0 2,1.7 4-0.1 1-0.7 1,0.1 3-2.8 2-0.7 1,0.2 3,2.6 2-0.6 4-8.3 1,0.3 1,1.1 4,8.2 4,0.1 1,0.5 3-0.3 2-1.2 2-2.4 1-2.1 2,0.1 3,4.4 2,1 3,0.3 2-0.3 3,0.5 1-0.4 2,0.5 1-0.6 1,0.4 2-0.1 1-0.6 1,1 1-0.8 1,0 2-3.1 4-17.8 1,0 1,1.3 3,14.7 1,2.5 2,2.4 3-1 2-3.3 2-7.4 2-3.5 1,0.2 1,1.3 2,5.8 2,0.9 1-0.4 1,0.6 2,4.6 2,1.3 2-4.7 1-6.4 3-33.3 1-7.4 1-3.7 1-1.8 4,43.3 2,11.3 1,1.3 1,0.3 1-1 1-0.1 1,0.4 1,2.3 1-0.8 1,0.5 1-0.1 2-1.9 2-6.3 4-20.1 2-1.5 2,8.4 2,11.8 2,7.2 2,2.5 1-0.1 1,1 1-0.5 1,0.5 1-0.6 1,0.7 1-0.4 2,0.7 4-0.8 2-1.1 3-4 2-1.8 1,0.3 4,5.6 3,1.3 2-2.8 2-4.1 1-0.4 3,5.8 3,1.7 3-0.4 3,0.5 5-0.7 2,0.7 2-0.2 2-1.6 2-5.3 2-14.4 2-19.7 1-16.2 1,2.3 2,9.6 3,29.1 1,4.8 1,1.1 2-16.1 3-48 1-5.8 1,0.9 4,61.4 1,9.1 1,4.8 1,2.5 1,1 1-0.1 4-4.7 2-0.1 4,4.9 2,0.1 1-0.6 2-4 2-10.7 1-11.6 2-30.1 1-29.8 2-29.5 1-22.7 1,4.7 1-4.6 2,30.3 3,66.2 1,13.5 2,16.9 1,0.7 1-0.3 2-12.2 2-28.1 3-30.4 1-1.3 1,1.4 1,8.3 4,51.5 2,14.2 2,6.1 2,2.4 2-0.9 3-2.6 2-0.1 1,0.4 2,2.3 3,1 3-6.1 1-0.7 1,0.8 2,4.5 2,2.2 4-0.2 3-1.6 1,0 2,0 2,1.2 3,0.7 2,0.1 1-0.5 2,0.7 3-0.7 1,0.5 2-0.4 4,0.4 2-0.4 6,0.2 1,0.3 7-0.4 1,0.5 6-0.4 1,0.5 1-0.4 4-0.4 4-2.9 7-15.9 1,1.4 2-1.1 6,14.3 1,1.5 3,2.4 2,0.6 5-0.2 1-0.3 2-2.4 1-0.4 3,1.8 1-0.7 1-2.4 2-9.4 2-6.2 1,0.9 2-1.1 1-3.3 1-1.5 2-1.6 2,3.4 2,1.6 2-8.3 1-1.9 1,2.3 1,4.9 1,10.6 1,2.8 2-1.5 2-4.4 4,14.6 1,1.7 2,0.9 3-0.8 3-3.6 2,0.8 3,3.1 2,0.8 2-0.4 1,0.4 2-0.8 4,0.7 4-0.6 1,0.4 5,0.2 3-0.7 2,0.5 1-0.5 2,0.4 3-0.4 3,0.3 6-0.6 1,0.3 3-2.9 1-2.6 2-2.9 2,1.4 3,5.9 3,1.4 2-0.7 1-0.8 1-2.1 4-32.6 1-3 4,32.4 2,5.5 2,1 1-0.5 2-0.1 1,0.9 2-0.5 2,0.3 3-0.9 3,0.5 1,0.6 3-0.9 2,0.4 5-0.5 1,0.7 4-0.6 1,0.4 1-0.7 1,0.5 1-0.4 5,0.6 1-0.5 3,0.5 4-0.8 1,0.9 1-0.9 1,0.5 1-0.3 1-1.3 1-2.7 3-13.5 1-0.2 3,13.8 1,2.7 1,1.2 1-0.1 1,0.8 2-1 1,0.8 3-0.1 1,0.6 1-1.2 6,0.8 1-0.3 2,0.6 1-0.8 2,0.5 3-0.3 1-0.6 5,0.6 1,0.5 6,0.2 10,1.4 37,0.2" stroke="#8c564b"/><path d="M291,571.9l3-5.7 1,0 1,2.6 2,3.3 1,0.9 2,0.6 4-1.2 1,0.9 4,0.2 2-0.5 2,0.4 1-0.6 1,0.6 2-0.8 2,1 2-0.1 1-0.5 2,0.3 3-0.4 4,0.8 2-0.7 2-0.1 1,0.7 2-0.5 1,0.5 2,0 1-1.7 1-5.3 2-20 1-2.2 1,5 2,19.7 1,3.7 4,1.3 1-0.3 1-1.2 1-2 1-5.9 2-29.4 3-82.4 1-3.5 1-15.6 1,20.1 1-18 2,4.5 1-9.9 1,7.4 1-3.3 2,32.1 1-15.4 1,7.1 1,1.1 1-3 1,34.9 1-12.8 2,17.2 1-13.9 1,9.5 1-4.9 2,16.4 1,0.8 1,5.6 1,10.7 1-0.4 1-4.3 1-1 1,0.2 1,8.8 1-0.4 1,5.3 1,2.1 1,0.5 1,6 1,1 1,0.1 1-2.1 1,0.6 1-0.4 1,0.7 1-3.1 1,9.5 1-5.1 1,3.3 2-5.9 1-1.2 1,1.3 1-4.5 1-1.4 1-5.4 1,1 1-8.6 1-4.1 1-0.3 3-10.7 3,5.4 1,6.3 1-1.6 1,4.9 1,1.7 2,10.5 1,8.3 3,7.4 2,9.4 1,0.6 1-1.1 2,4 1-0.7 1,2.4 3-1.2 1,2.5 1,0.6 2-0.6 2,1.2 1-0.6 1,1.3 1,0.3 1-0.9 1,2.5 1-2.1 2,2 1-2.1 1,1.8 1-0.9 2,0.7 1,0.8 2-0.8 1,0.4 1-1.1 1,2.2 1-2.9 1,2.2 1-1.2 1,1.3 1-0.2 1,1.2 1-0.9 1-1.9 1,2.4 2-1.1 1,2.3 1-0.6 2,0.1 2-7.3 2-3.3 1-0.2 3,4.7 1,5 1,1.1 1-0.5 1,2.9 2-1.9 1,1.9 1-1.3 2,1.2 2-1.9 2-0.5 2-5.1 1-5.6 4-32.8 2-24.2 1-8.2 1-0.8 1,0 1,4.6 1,2.2 1,15.7 3,30 2,16.4 2,7 1-1.5 2-7.7 3-7.3 3,10.9 1,1.4 1,0.5 3,6.6 1,1.3 2-1.2 1,1.8 1-1.1 3-1.1 1,2.5 1-2 1,0.7 2-1 2,1.1 1-0.4 1,2.1 1-2 2,0 2-4 2-21.3 3-59.4 1-14.7 1-6.5 5,88 2,14.9 1,2.2 2,1.3 1,1.7 1-1.6 1-0.2 1,1.1 1-0.8 1,1.5 1-0.7 2-4.5 3-17.1 1,0.1 2,6.2 1-3.3 3-59.6 1-0.7 2,48.2 1,18 1,7.4 1,1.5 1,0.3 1-4.9 3-28.2 1,1 1,5.6 3,26.4 1,2.2 2,2.4 1-1.7 1,0.4 1-0.5 1,0.2 1,0.8 2-0.3 1,0.7 2-0.7 2,0.9 2-1.6 1,1.1 1,0.2 2-0.3 1-0.6 2,1.2 3-0.7 1,0.8 1-0.5 2,0.6 1-0.6 1,0.1 3-2.5 1-3.5 3-6.2 2,2.6 2,5.8 2,2.8 1-0.2 1,1.1 2,0.7 2-0.4 1,0.4 1-0.6 1,0.9 1-1.5 1,0.4 1-0.5 1,0.9 1,0.1 1-1 1,0.3 1-1.5 1-0.6 1-2.5 3-9.4 1-6.4 1-2.9 4,17.6 2,6.6 1-1.3 1,0.7 2-4.4 2-0.7 1,0.7 1,2.9 2,1 1,1.2 1-0.3 2,0.5 2-0.6 1,0.3 1-0.5 3-3.6 1,0.8 1-0.7 2,3.3 1-1.2 1-2.7 3-35.1 1,2.9 2,28.4 1,5.6 1,2.4 1,0.8 2-0.2 1,0.9 1-0.1 2-1.5 2,1.1 1-0.5 1,0.2 1-0.5 1,0.5 2-0.6 1,0.8 1-1 3,0.9 1-1.1 1,0.1 1-0.7 2,1.3 1-0.3 3,1.3 6-1.2 1,0.9 1-0.5 3,0.7 4-3.5 2,0.5 1-0.9 1,2.4 1,0.6 1-0.3 1,0.9 2-0.8 1,1 1,0 1,0.6 1-1 2,0.4 4-0.8 5,0.8 1-1.1 1,1.1 2-0.7 4,1.2 1-0.6 1,0.4 1-0.7 4,1 1-0.6 1,0 3-7.4 1-1.6 1-0.7 2,7.3 2,1.9 1,0.5 2-0.7 1,0.8 2,0.4 1-1.2 2,0.9 1-0.6 5,0.4 1-0.8 1,1.2 1-1.4 1,0.4 1-0.2 2-1.9 1,0.5 1-1.1 2-6.3 3-13.8 1-1.3 1,2.1 2,11.4 2,8.3 1,1.9 1,0.2 1-0.6 1,1.3 4-0.1 2-1.6 1-2.1 1-7.9 3-43.8 1,4.9 2,32.2 1,9 1,0.7 2-1.4 4,8 1,0.7 1-0.7 1-1.9 1-3.6 1-0.5 1,0.5 1,2.5 3,4.6 1-2.4 2-0.8 1-1.3 2-0.7 1-2.3 3-17.7 1-1.2 2,8.2 2,13.2 1,2.7 2,1.8 3,0.1 3,1.4 1-1.5 1,0.9 1-0.4 1,0.4 2-0.9 1,0.9 1-0.5 1,0.3 2-1.3 3,0.7 1-0.3 3,0.9 3-0.2 1-1.4 1,1.2 1,0.4 2-2 1,1.7 1-0.6 1,0.7 2-0.7 2-4.5 1-5.8 1-19.1 2-142.9 1-29.2 2,147.3 1,42.9 1,10.1 1,1.3 1-0.9 1,1.7 2-0.2 2-1.7 1,0.8 1-2.1 4-20.6 1-0.2 1,2.6 2,14.2 2,5 1,1 2-0.3 1,1.3 1-0.9 1,0.1 1,1 1,0.2 1-1.9 3,1.5 2-1.3 2-3.8 1-4.9 2-16.9 2-2.3 3,17.1 2,8.6 1,0.7 1,1.8 1-0.8 2,2.1 2-1.8 1-0.2 1,0.8 2-0.8 2-8.4 3-22.4 1-4.2 1,2.2 2,9.9 2,16.7 1,3 3,3.5 2,0.6 1-1.1 2,2 1-1.2 2-0.2 1-1 1,1.3 2-1.2 1-1.1 2-10.9 4-55.7 1,1.9 3,46.3 1,8.5 1,6.3 1,3.1 2,1.9 4,0.4 3-1.5 1,0.2 1-1 1-0.1 1-2.5 1-9.4 1-3 1,1.6 2,12.2 1,1.1 1,2.4 1-0.5 1,0.3 1-1.1 1,0.5 1-0.7 1,1.8 2-1.6 1,1 1,0.1 1-0.7 1,0.5 1-0.5 1,0.6 1-0.4 1,0.5 2-0.5 1,0.9 2-1.5 1,0.1 1-1.1 1,0 1,2.1 1-1.2 1-0.4 2,2.1 2-2.6 1,0.6 1-1.1 4-9.8 1-0.1 1,1 1,0.2 3,9.1 2,1.4 1-0.9 2,1.3 1,0.2 2-2.2 1,0.5 1,1.6 1-2.2 3-0.9 1-3.3 1,0.2 1-1.4 1,0.3 1,1.1 1-0.3 1,1.8 1,0.1 1,1.2 1,1.9 1-0.4 1,1.4 1-0.6 1,0.2 1,1.4 3-3.5 1-5.1 4-34.6 2-27.6 2-19.3 2,10.6 2,32.3 3,33.8 1,7 1,3.5 2,2.2 1-1 3,1.1 1-1 1,1.3 1-0.7 3,0 3-1.6 1,0.3 2-4.3 3-9 1-1.5 2,4.6 2,6.9 1,1.2 1,2.5 1-0.2 1,1.3 1-0.1 1,0.5 1-0.5 1,0.5 1-0.7 2,0.9 1-1.9 1,0.7 2-3.2 2-16.1 1-0.3 3,17.9 1,1.8 1,0 1,0.8 2-1.6 2,1.1 1-0.9 1,1.1 2-2.1 1-0.3 3-8.6 1-0.7 1-2.3 1-0.9 2,1 2,6.3 1,0 1-0.8 2-6.7 4-35.9 2-8.3 1,14.7 1,5.4 2,23.6 1,6.7 3,6.7 1-1.8 1,0 1-2.6 1-1.2 2-0.9 1,2.8 1,0.3 2,3.8 1,0.4 1-0.7 1,1.4 1-0.5 3-8.3 1-6 5-55 2-12.4 1,2.7 1,0.5 4,43.7 2,14.3 1,1.8 1-1.4 1-5.5 1-10.5 2-27.1 3-65.9 2-28.4 2,9.4 1,12.1 3,60.4 3,46.6 2,19.4 1,4.3 1,1.5 1,0 1-1.7 1-4.8 3-25.9 1-4.1 2,9.9 3,25 1,3.8 2,2 1,1.8 1-0.6 1,0.1 1-1.5 1,1.5 2,0.8 1-1.1 1,0.3 1-0.8 2-0.4 1-2 1,1.2 1-0.8 1,0.5 1-0.3 2,2.3 1-0.6 2,1.3 1-0.5 4,1 1-0.4 2,1.7 1-2.2 2,1 1-1.4 1-0.1 1,1.5 1-1.1 1-0.3 1,1.4 1-0.8 1,1.3 1-0.8 2-0.5 2,1.3 3-0.4 1-0.7 2,2.3 2-2.7 1,1 1-0.2 2-3.2 1-0.2 1-2.3 1,0 1-0.6 2,4.4 1-0.8 1,2 1,0.5 1-0.3 1-1.2 1-0.2 1-1 5-10 3-1.2 2,1.8 3,7.5 4,3.8 1,1.8 2-4.5 1-4.6 2-3.8 2,9.3 1,2 3,2.1 3-1.1 1,0.9 1,0 1-1.4 1,1.3 1-1.5 1,0 2-2.7 1,0.2 2-4.3 4-18.5 1-0.9 1-3.4 3-4 3,19.8 1,3.3 2-2 1-2.2 1-1 1,0.3 3,12.3 1,1.2 2-1.4 1-2.4 2,0.2 1,2.2 3,3.6 1,0.2 1,1.6 1-0.9 2,0.2 1,0.7 2-1.1 1,0.1 1-1.1 1,1.1 1-1.1 3,2.3 1-0.7 5,0.5 1-0.2 1-1 1,1.3 1-0.5 4,0.2 2-0.7 1,0.5 3-0.5 1,0.7 1-0.4 2,0.7 1-1.7 2,1.7 1-0.1 1-1.2 4,0.1 2-2.5 3-5.8 2,0.8 2,2.4 3,5.3 1-0.8 1,1.3 1-0.7 2-4 2-12.5 2-17.7 1-3.1 2,9.6 1,10.9 2,13.5 1,3 2-0.1 1,1.5 1-0.7 2-0.5 1,1.2 1-0.1 1-1.5 1,1.1 1-0.6 1,1 1-0.9 1,0.7 3-0.9 1,0.4 2-0.5 1,0.9 1-0.6 1,0.8 1-0.2 1-1.2 1,0.5 1-0.5 2,1.6 1-1.4 1-0.1 1,1.2 1-1.2 2,0.5 1-0.7 1,1.1 2-0.8 1,0.9 5-1.4 2,0.3 1-0.5 1,0.6 2-1 1,2.3 1-0.9 1-0.3 1,0.3 3-1.5 2,0.5 2,1.4 1-0.2 1-1.3 1,1.7 1-0.8 2,0.4 1-0.9 1,0.7 1-0.5 1,1.6 2-1.3 1,0.7 2-1.1 1,0.7 2,0.3 1-1.1 1-0.2 1,1.3 2-1 2,1.2 1-1.2 1,0.9 1-1.1 1,0.7 4-1 1,1.1 1,0 2,1.5 4-0.9 1,0.8 4,1.3 1-0.2 2,1 1-0.3 11,0.6 2-0.5 1,0.5 2-0.1 1-0.4 1,0.6 3-0.4 11,0.4 5-0.3" stroke="#e377c2"/><path d="M291,573l3-6.1 1,1 1,3 2,2.9 1-0.6 3,0.6 6-0.4 1,0.6 2-0.5 2,0.3 1-0.5 1,0.6 2-0.3 2,0.4 11-0.3 1,0.7 3-0.7 1,0.6 8-0.4 1-1.2 1-4.2 2-11.7 1,0.6 2,13.1 1,2.9 1,0.8 3,0.5 2-0.4 1-1 1-4.1 2-36.1 3-222.7 1,46.9 1-13.6 1-2.1 2-54.6 1,38.4 1,15.9 2-26.4 1,44.7 1,18.6 1,9.6 1-7.2 1-0.5 1,25 1,12.3 1,2.1 2,18.8 1-5.2 1,15.6 1,6.2 1,0 1,24.3 3,2.9 1-3.7 1,11.8 1,1 1,13.1 1-4.8 1,1.5 1,5 1,0.8 1,8.6 1-7.9 1,9.1 1-1.8 1,7.2 1-1.6 2,4.1 1,4.9 1,1.4 1,0.5 1,10.6 1-7.1 1,0.5 1-1.4 1,4.6 2-0.7 1-2.8 1,0.9 1-3.7 1,2.3 1,0.7 1,0.3 1-1.2 2,2.7 1-0.2 1,3.4 1,0.8 1-0.6 1,4.3 1-1 1,0.1 1,5.7 1,2.9 3,2.2 3,3.6 1-0.7 2,1.4 1-0.3 2,3.8 2-0.9 1,1.3 1-1.8 1,2.4 1,0.3 1-1.5 1,0.1 1,2 1-1.4 1,0.9 1-0.3 1,1.2 1-0.5 1,0.2 1,1 1-0.9 1,0.6 3-0.4 1,0.8 1,0.3 1-0.4 2,1.1 2-0.5 1,0.3 1-0.5 3,2 1-1.5 1,1.9 2,0.2 1-1.5 1,0.8 2,0.1 1-0.6 1,0.8 1-0.5 1,0.5 1-0.1 1,0.7 1-0.7 2,0.6 2-0.4 3,1.5 1-0.1 2-1.4 1,1.4 1,0 1-1.1 1,0.6 1-1.1 2-4.3 1-3.7 2-11.9 2-20.6 3-23.2 2-2.6 1,7.3 1,1.1 2,23.6 3,24.3 2,7.7 3,4.1 1-1.3 1-0.4 4,2.4 2,0.4 1-0.5 2,0.1 2,0.7 1-0.3 1,0.8 1-1.1 1,0.5 4,0.2 1-0.6 4,0.6 1-0.6 2,0.2 1,1.3 1-1.7 1,1 1-0.9 2,0.2 2-2.3 4-14.3 1-1.4 5,16.6 2,1.9 5-0.3 1,0.7 2-1 2-5.3 2-16.1 1-3.7 1,3.7 3,18.5 1-0.2 1-3.5 3-36.4 1-5.2 3,31.7 1,1.4 1-7.7 3-38.7 2-70.9 1-23.2 1-1.1 1,18.6 3,112 1,14.9 1,7.9 1,3.4 1,1.1 1,0.3 1-0.9 1,0.4 3-3.1 1,0 1-0.7 2,1.1 1,1.5 3,1.5 3-1.8 1-2.5 1-1 1,0.6 3,3.9 2,0.2 2-0.7 3-8.9 1-5 1-2.9 1-0.9 2,4.4 2,7.6 2,4.8 2-1.2 2-3.6 1-0.3 3,5.8 1,1.1 1-0.7 1,0.9 1,0.1 1-0.5 3,0.3 1-0.9 2,0.4 1-0.4 1-1.4 4-17.6 1,0 3,13.5 2,5.5 1,1.3 1-0.8 1,0.5 1-0.5 1,0.2 1,1 1-0.9 2-0.1 1,0.8 1-1.2 2,0.9 3-0.9 1,0.6 1-0.2 1-0.9 2,1 1-0.7 2-0.3 5,1.5 1,0 1-0.8 1,0.7 1-1.3 1,1.5 1-0.7 4-0.6 1,0.9 2-1.1 1,0.6 3-0.4 1,0.9 2-0.8 1,0.8 1-0.6 1,0.8 1-0.1 3-4.7 2-7.8 3-5.9 1-0.5 1-3.2 2,10.4 1,3.5 2,4.3 2,3.1 1,0.1 1-1.2 1,1.5 1-0.7 1,0.4 1-1 2-0.1 1-1.1 1,0.9 1-1.3 2,0.7 1,1.6 1-0.5 3,1.1 1-0.5 1-1.5 1,2.2 2-0.4 1,0.7 1-0.9 1,0.5 1-0.6 1,1 2-1.7 2,1.1 1-0.6 4,0.1 1,0.9 1-1.2 1-0.4 1,0.8 1-1.2 1,1.2 1,0.4 1-0.6 1,0.6 6-5.9 1,0.7 2,3.3 1,0.2 3-5.4 2-0.3 3,3.3 4-7 1-2.8 4,11.5 1-0.3 3,2.7 1-1.5 2,0 2-3 1,0 1-0.9 5-12.5 3,7.5 1,5 2,4.2 1-1.2 3,1.8 3-0.3 1,0.5 2-1.3 1,1.1 1-0.8 1,0.6 2,0.1 2-0.6 1-2.2 2-6.9 1-7.1 1-3.8 1-0.1 1,3.2 2,12.1 1,1.9 1,3.9 1-1 1,0 1,0.8 1-0.7 4,0.6 2-0.5 2,1.3 3-2.9 1,1.5 1,0.3 3-3 1,2.1 1,0.8 1-0.7 1,0.7 1-1.7 2,1.1 1-1.5 1,0.8 1,0.2 1-0.6 1,0.7 1,0 1,1.8 1-1.2 3,0.7 2-1.3 3,1.2 1-0.7 1,0.4 1-0.7 2,0.9 1-0.2 1-0.8 1,0.6 3-0.4 2,0.6 2-0.5 1,0.7 3-2.3 1-4.1 3-21.2 1,2.5 2,16.4 2,8.3 1,0.9 2-0.7 3,0.3 1-0.7 2-0.5 1,0.6 2-3.7 1-5.9 3-29.5 1,2.1 3,28 1,6.5 1,2.2 2,0.6 1-0.6 2,1.6 1-1 1,0.4 2-1.1 2,0.9 1-0.6 2,1.5 1-2.4 1-0.3 1-1.5 3-10.1 2,0.8 1,1.6 1,5.7 2,4.8 1-0.6 1,1.2 2,0.1 1-1.3 1,1.6 1-0.5 1-1.4 1,1.3 1-1 1,0.4 1-2.2 1-5.8 3-50.6 1,4.5 2,36.2 1,12.8 1,4.6 1,0.8 1-0.9 1,1.8 1,0.4 1-1.2 2,0.3 1-0.5 1,0.7 1-0.4 2,0.8 1-0.6 1,0 2-2.8 2-14.9 5-122.3 1,1.3 4,113.5 2,21 2,4.1 1,0.7 1-1.1 1,0.9 3-5.3 1-4.7 4-33.9 1,1.1 5,38.6 3,5.1 1-1.2 3-0.8 1,0.7 2,0.2 1-0.8 2,1.2 1-1 3,0.8 1-1.1 1,1.5 3-1.3 1,0.6 1-0.4 2,0.1 1,0.6 1-0.9 1,0.9 1,0.2 4-0.7 1,0.7 1-0.6 3,1.4 1-0.4 1-1.1 2,1.6 1-1.2 1,0.8 1-1.3 2,0.9 2-1 1,1.2 2-1.1 1-0.8 2-4.7 3-15.8 3-9.2 1,3.3 3,16.4 3,10 1,0.9 1-0.1 1,1.4 2-1 2,1 1-0.3 1-1.3 2-4.5 4-30 2-4.6 1,8.9 1,4.4 1,11.6 3,12.6 3,3 1-0.4 2,1.4 1-1.8 2,0.1 1,1.2 2-0.6 1-0.7 2,0 2-1.9 2-8.4 4-25.9 1-3.3 1,2.3 5,31.9 2,4.7 3,1.6 3-0.3 1-0.6 1,1 4-0.4 1-0.8 2,0.9 2,0 1,0.6 6-0.7 1,1.2 1-1.2 2-0.8 2-2.8 2-10.6 2-14.9 1-5 1-1.4 2,7 2,14.1 1,4.2 1,0.4 1-2.2 1-6.3 3-27.4 2-4.6 2,13.2 3,26.5 2,7.5 1,1.6 1,0.5 2-3.3 1-3.6 2-4.4 1,0.1 4,9.9 2,2.9 3-1.2 1-1.6 2-5.7 3-12 3-19 1-1.5 1-3.4 2,3.4 1,3.8 4,22.9 1,3 1,1 2-1.4 2-8.6 3-17.6 2-6 2,6 5,27.8 3,7.8 2,0.9 1-1.2 1-2.7 2-12 2-16.4 1-1.3 1-3.1 3,22.1 2,10 1,3.3 2,2.1 1,0.2 1,1.3 2-1.9 1,0.5 3-3.3 1,0 3,3.9 2-0.2 1,0.6 1-0.3 1,0.4 2-0.6 1,0.9 1-0.6 4-0.6 1,0.9 1-0.7 1,0.4 1-0.8 1,1.2 1-0.5 6,0.4 2-0.7 6,0.6 1-0.7 3,0.6 2-0.9 1,0.1 2-1.8 1-2.2 2-1.4 2,2.2 1,2.2 1,0.3 1-0.3 1,1.1 1-0.9 1-3.1 2-12.4 1-9.5 1-1.1 2,8.5 1,2.2 1-0.7 5-29.2 1,2 1-0.7 1,4.8 1,1.7 1,7.9 5,23.7 2,4.6 2,1.7 4,1.6 4-0.8 4,0.2 1-1.6 1,0.2 2-3 2-6.7 3-16.7 2-8 1,2.5 3,17 3,10.5 1,0.6 1,1.5 1,0.3 1,1.8 3-2.4 3-9.4 3,4.9 1,1.1 1,0 1,1.3 2,3.9 1,0 1,0.7 2-0.5 1-1.6 2-0.9 1,0.3 2,2.4 2,1.2 3,0.6 1-0.6 1,0.4 4,0 1-0.5 4,1.1 1-0.9 2,0.6 2-1 1,0.4 3-0.2 1-1 1,1.7 1-0.7 3-0.4 1,0.8 2-0.6 3,0.9 2-0.9 1,0.2 1-0.8 2-0.1 3-5 2-2.1 1,1.1 3,5.8 1-0.2 1,1.1 1-1 1,1.1 1-1 1-2.9 1-5.3 1-11.7 3-70.9 1-6 1,5.6 3,70.4 1,11.1 1,7.1 1,1.8 2,1.3 2,0.5 1-0.9 4,0.6 1-0.4 1,0.5 1-0.5 1,1 1-1.5 2,1.4 1-1.2 1,1.2 1-0.8 3,0.6 2-1.5 1,1 4-0.5 2,0.9 1-1 1,0.7 2-0.7 1-1.9 1,2.6 1-1.6 1,0.8 1-0.7 2,1 2-0.3 1-0.7 1,1.3 2-0.9 1,0.5 1-1.3 2,1.5 2-0.6 2-1.8 1-0.1 1-1.6 3,1.5 1,1.9 3,0 2,0.9 3-0.3 1-0.6 1,0.8 1-1.2 1,0.2 1,1.4 2-2.2 1,1.7 2-1.8 4,1.7 1-0.9 1,1.5 1-1.4 1,1.1 2-1.5 2,0.6 1-0.6 1,1.2 2-0.6 3,1.5 6,1.3 1,0.7 2-0.3 1,0.7 2,0.2 38,0.4" stroke="#7f7f7f"/><path d="M291,575l59,0 5-2 5-1.4 14-1.7 21-0.6 45-0.2 160,0 219,2.5 267,1.6 616,1.4" stroke="#bcbd22"/><path d="M291,571.6l1-2.5 2-10.8 1,0.8 2,10.4 1,2.9 1,0.6 5,0.4 1-0.7 1,0.5 1-0.3 6,0.6 2-0.5 4,0.3 1-0.5 1,0.6 6-0.5 1,0.5 3-0.3 3,0.5 2-0.4 1,0.7 6-0.7 1-1.8 1-4.8 2-19.2 1,0.5 2,18.6 1,5.4 1,1.6 2,0.6 2-0.4 1-1 1-3.3 1-13.4 1-23.8 2-93.8 2-59.7 1,22.9 2-27.6 1,4.6 1,12.5 1-8 1-3.8 1,31.1 1,11.4 1-4.4 1-33.8 1,41.4 2,16.8 1,1.8 1,7.7 1-10.7 1,29 1-7.4 1,0.8 1,12.4 1-3.1 1,11.5 1-4.6 1,10 1-0.5 1,3.4 2,11.8 1-4.2 1,9.5 1-5 1,0.8 1,5.4 1-4.6 1,15.7 2,0.7 1-9.2 1,9.8 1-4.1 1,4.9 1,2 1,6 1-1.3 1-2.9 1,9.7 1-4.2 1,1.5 1,5.3 1-6.8 1-3 1,2 1-4.8 1,4.1 1-4.1 1,0.8 2-4.8 1,1.7 1-0.6 1,7.7 1-1.3 1,2.4 1-0.1 3,6.5 1,4.1 1-1 2,6.1 1-2.2 1,3.8 1,0.9 1,2.3 1-2.1 1,3.3 1,0.2 1-1.1 1,2.7 1-3 1,3.5 1,1.1 1,0 2,1.3 1-1.6 2,4.7 2-3.5 1,1.2 1-0.8 1,2.4 1-1.9 1,4.1 1-3 1-0.7 2,2.6 1-1.1 1,1.1 2-0.8 1,2 2-2.1 2,1.9 3,0.9 2-0.3 1,0.7 2-1.6 1,1.8 1,0.2 1,1.1 2-2.6 1,1.3 1,0 1,2 1-1.8 1-0.4 1,0 2,1.2 1,1.2 1-0.6 1,0.3 1-1.8 2,1.8 1-1 1,0 1,0.9 1-0.6 4,0.8 3-2.3 1,0.1 2-6.4 1-1.6 2-8.5 1-0.6 1-1.6 1,1.3 1-2.8 2,4.3 4,13.4 2,4.2 1,0 3,2.2 4-1.1 1,1.6 2-2 1,2.1 1-0.3 2,0.4 1-0.9 1,0.5 1-1.1 1,2.3 1-1.2 1,1 1-0.9 2-0.7 2,0.8 1-0.3 2,0.6 4-0.3 2-0.7 1,1 2-1.6 1-1.7 1-4.8 3-37.2 1-21.6 1-8 1-4.2 1,7.9 3,47.7 1,11.4 1,4.4 1,1.1 1-1.1 1-4.7 1-0.5 1,1.4 4,11.1 1-0.5 1-1.4 1-7.8 3-43 1,1.4 3,42.9 1,5.1 1-0.9 1-5.9 3-37.5 1,5.6 2,28.8 1,8 1,1 1-7.7 1-20.1 2-76 1-4.1 1-0.4 3,93.3 1,12.9 1,5 2,2.7 3,0.4 1-0.8 1,0.9 2-0.9 3,0.6 3-0.7 2-2.5 3-1.5 1,1.8 2,2.1 1,0.5 1-0.2 1,0.7 1-0.6 4,0.3 2-0.9 1-0.9 1-3.2 3-13.1 3,10.7 1,2.1 2-3.6 2-7.7 1-1.3 5,14.9 1,0.7 1,2 2,1.5 1,0.1 2-1 1,0.4 2-0.2 2-1.4 1-1.8 1,0.3 1-1.5 1-0.1 2,2.7 2,0.8 1,1.2 2-0.6 1,0.4 1-0.8 1,0.7 1-0.9 2-4.9 2-7.2 2-0.9 2,3.6 1,4.5 1,2.1 1,1.6 1,0.1 1,1.5 2-3 3-7.1 1,0.4 4,10.3 2,0.5 1-0.4 2,0.1 2,0.9 2-1 2,1 1-0.9 2,0.5 1-0.5 2,0.7 2-0.1 1-0.9 1,0.4 2-0.3 1-2.3 1-2.8 3-16.6 1,0.2 4,19.8 2,2.1 2-0.6 1,1 4,0.1 2-0.8 2,0.6 3-1.7 1-1.1 1-3.2 2-1.2 2,2.8 2,4.7 1-0.8 1,0.6 1-0.6 1,0.4 1-0.6 2,1.2 1-0.6 2,0.5 3-0.8 1,0.4 2,0.1 1-0.8 3,0.7 1-0.7 3,0.5 3-0.6 1,0.9 4-1 1,0 1,0.8 1-0.7 1,0.5 3-0.2 1,0.5 2-1.4 1,0.8 2-0.3 1,0.6 1-0.5 2,1.5 1-2 1-0.7 1,1.8 1,0.1 3-0.2 1,0.5 3-0.8 1,0.5 1-0.7 1,0.4 2-0.3 1-0.4 2-3.2 1-3.6 1-8.1 3-51.4 1-6.1 1,5.9 3,51.7 1,7.8 1,3.7 1-5.9 3-46 1,0.1 3,47.1 1,5.3 1,2.6 1-0.2 1,0.8 1,0 2-3 4-25.9 1-0.6 2,16.2 2,10.8 1,1.7 1,0.5 1,1.6 1-1.2 1,0.2 1-0.9 2,0.4 1-0.6 3,0.6 2-0.2 2-1.5 1-3.3 1-6.8 2-17.5 1-1.6 1,4.2 3,22.6 2,3.9 2,0.5 1-0.9 2-0.5 1-2.1 2-1.1 1-2 2,2.7 4,3.1 1-0.9 1,1.6 1-0.9 3-0.2 2-2.3 3-11.8 1-1.9 1-0.2 1,5.8 3,9 2,1.2 2-0.9 2-2.7 3-11.7 1-1.4 1-0.2 1,1.8 3,12.4 1,1.4 1,0.7 2,0.5 1,1 1-0.6 2-0.2 1-1.1 1,0.8 1-1.2 1-1.9 1-4.8 2-5.5 1,0.5 1,2.2 3,10.5 2,0.8 1-0.7 1,0.7 3-1.1 1,0.8 3-0.7 1,0.5 4-0.3 1,0.9 1-1.5 1,1.3 1-1.1 1,0.2 1-0.9 2,0.2 2-3.3 1,0 1,2.3 1,0.2 2,1.7 2,0 1,0.7 3-1.7 1,1.9 2-1.4 3,0.9 1-2 1,1.2 1-0.4 3,1.8 1-2.2 1,1.3 1-0.2 1-1.3 1,0.2 1,1.8 3-1.8 2,0.6 1,1.1 1,0 1-1.8 1,1.6 2,1.2 2-7.2 1-5.9 4-49.5 1,2.5 5,52.9 2,5 1,0.8 2-0.6 2-1.3 1,1.7 2-1.5 1,0.4 1-1.5 1,0 1-1 2,2.8 1-1.3 2,1.9 2-0.3 1-0.9 1,2.1 1-0.9 1,0.3 1-1.2 2,1.3 1-0.2 3-4.8 1-3.3 1,0 2,1.2 2,5.3 1,0.4 1-0.9 1,0.9 1-0.4 2,0.1 1,0.7 1-0.6 1,1.5 1-0.9 1,1.3 1,0.3 1-0.4 1-1.3 2,0.7 2-0.4 1,1 1-1.3 2-0.4 1,1.2 1-1.4 1,0 1-1.9 1-0.2 1-1.6 2,2.2 1-0.6 3,3.3 1-1.3 1,0.2 2-5.2 3-16.7 1-10.4 1-3.9 2,4.9 4,21.4 2,6 1-0.5 1,4.6 1-0.1 1-1.4 1,2.9 1-0.5 1,0.4 1-1.7 1,0.7 1-0.5 5-7 1-3.7 4,4.6 1,2.5 1,0.5 1,3.3 1-1.4 1,2 4-0.2 1-0.5 1,1 1,0.1 1-1.1 1,1 1-2.6 2-3 2-1.8 1,1.2 1-0.9 1-4 3-22.1 2-6 1,3.4 2,15.6 2,9 1,3.4 3,3.6 1,2.5 1,1 2-0.1 1-2.5 3-14.4 1-1.3 2,6 2,9.4 2,3.5 1,0.8 1-0.7 2,0.5 1-0.6 1,1.1 1,0.1 1-1.9 1,0.7 1-1.8 2-8.3 2-21.9 2-35.9 1-7.1 1-16.9 1,1.5 1,10.7 2,35.7 2,26.4 2,11.2 2-4.1 2-11.3 1-1.8 1-5.3 1,1.8 1,0.6 4,19.1 2,6.3 2,0.7 1-2.3 1,0.1 1-2.4 2-1.4 1,0.4 4,5.5 1-0.7 1,1.4 1-1.4 1-0.1 1-1 2-9.2 2-17.6 2-24.9 3-46.5 2-13.5 1,1 1,2.6 1,19.8 3,38.3 1,11.9 1,5 1,3.2 1-2.6 3-25.3 4-26.8 1,2.5 2,8.7 5,54.2 3,16.2 1,2.1 1,0.9 2-2.5 2-10.1 2-14.7 1-1 1,0.8 4,25.1 2,5.3 1-0.7 3,1.8 1-0.5 1,1.7 1-0.9 2-0.1 1-1 1,0.9 1-0.9 2,1.3 2-1.3 1,0.9 2,0.5 3-1.4 1-2.7 2-3.4 2,0.5 2,4.4 3,2.1 1-0.5 1,0.9 1-0.9 2,1 1-0.9 1,0.6 2-1.2 1,1.3 1-1 1,0.7 4,0.7 2-0.8 1,0.5 2-0.4 2,0.6 2-0.6 1,0.4 2-1.4 1-0.3 1,0.6 1-0.7 1,1 1,0 3-3.1 2-6.3 3-12.9 3-21.1 2-4.6 1,1.1 2,7.8 4,25.6 3,9.9 3,4.3 1-1 1,0.9 5,0.9 1-0.7 1-0.1 1,0.9 1-1.5 2,1 4-2.1 1-1.7 2-6.4 2-12.1 1,0 1-5.3 1-0.4 1,1.4 1,5.2 2,6.6 1,1.5 1-0.7 2-5.1 4,12.4 1,0.1 2-9.3 2-6.9 2,6.3 2,11.5 2,4.3 2,1.3 1-0.5 1,0.4 3-1.2 1,0 3-4 1,0.5 1-0.4 3,2.1 1,2 1-0.7 1,1.1 1,0.4 3,0.2 2-0.7 3,0.2 2-0.7 1,1 1-0.6 1,0.6 1-1.1 1,1.2 5-0.7 2,0.5 1-0.9 3,0.7 3-0.2 1-0.7 3,1.1 3-1.9 3-5.2 1-0.4 2,1.2 3,4.9 1-0.1 1,0.8 2,0.6 2-4.2 1-4.7 1-11.1 3-71.1 1-8.2 1,0.4 4,86.2 2,10.9 2,1.2 2,0 2-0.8 1,0.8 1-0.4 3,0.9 1-0.8 3,0.1 1-0.7 3-0.1 2,1.3 1,0 2-1.6 3,1 2-0.3 1,0.6 1-1.2 1,1.4 1-0.8 1,0.3 1-0.4 1-1 2,1.9 1-1.5 2,0.2 1,0.7 2-0.9 1,1.1 1-1.7 1,1.8 1-0.6 1,0.6 1-1.6 3,0.2 1-2.5 1-0.7 1-4.3 1,2 2,2.3 1,2.7 1,1.2 1-0.8 1,1.3 1,0 1-1.4 1,0 2,1.1 3,0.2 1-1.1 1,0.8 1-0.8 2-0.5 1,1.2 2,0.8 1-1.5 2,0.2 2-0.5 2,1 2-0.3 1-1.2 1,1.6 1-1.8 1,1.1 1-0.8 1,1 1-0.5 1,0.8 1-0.5 2,1.7 1-0.4 3,1.3 1-0.1 7,1.8 1-0.5 7,0.5 3-0.5 2,0.5 6,0.1 1-0.4 9,0.6 1-0.5 7,0.3" stroke="#17becf"/><path d="M291,572.6l3-13.4 1-0.8 2,10.9 1,3.2 1,1.4 42,0.2 1-0.1 1-0.8 1-4.2 1-9.3 2-35.1 1,0.1 3,44.6 1,3.9 1,0.7 2-0.1 1-1 1-2.4 1-5.5 3-33.8 1-7 2,16.4 2,24.3 1,5.7 1,2.4 1,0.9 8,0.3 2-0.6 1-1 1-2.5 3-12.8 1-2.7 1-0.4 1,2.5 1,5.5 1,2.3 1-6.6 2-38.7 1,10.4 2,39.5 1,4.5 2,0.6 1304,0.1" stroke="#1f77b4"/><path d="M291,571.9l2-8.3 1-1.7 3,9.9 1,2 1,0.6 12,0.4 20-0.4 8,0.4 5-0.5 1-2 1-6.2 2-21.5 1-2.6 3,29.8 1,2.5 1,0.4 1,0.1 2-2 2-16.2 1-24.6 3-142.1 2-49.3 1-4.2 1,21.6 1-12.2 1,2.4 1-31 1,39.6 1-18.4 1,0.2 1,32 1-23.8 1,33.2 1-17.7 1,23.2 1,6.4 1,21.4 1-9.6 1,3.9 1-3.4 1,41.9 1-2.4 1-10.7 2,30.4 1-12.8 2,21.1 1,1.5 1,7.2 1,17 1-10.5 1-3.4 1,5.8 1-4.3 2,21.9 1,3.8 1-8.4 1,5 1,0.8 1-1.5 1,8.4 2,9.1 1-7.5 1,1.5 1,9.7 1-9.4 1,8.7 1,1.8 1-2.6 2-2.6 1-4.1 2-0.6 1-4.4 1-0.9 1-5.1 2,3.6 1-0.7 2-0.5 3,13.4 1,1.5 1,8.1 2-0.3 1,6.3 3,10 1,0.6 1,3.1 1-1.3 2,1.8 1,3 1,1.2 1-2.8 2,3.8 2-0.4 1,1.2 2-1 1,0.6 1,2.3 1-0.8 1,0.2 1,1.2 1,0.2 3,0.1 1-0.6 2,2.6 1-1.7 1,1 1-0.5 2,1.2 1-0.3 1,1.3 1-0.7 3-0.6 1,1.6 1-1.1 3,1.5 3-0.5 1,1.4 1-1.2 1,1 1-0.2 1,0.7 3-0.6 1,1.3 3-1.4 1,0.9 1-0.7 1,1.2 3-0.8 1,1.1 1,0.1 2-0.9 1,0.3 1,1 2-0.1 2-3.6 2-7.8 2-14.6 3-29.3 2-8.9 1-0.6 3,24.2 2,22.1 3,15.4 1,0.9 1-0.5 1,0.3 2-4.4 2-2 4,5.9 2,0.3 1-0.4 1,1.3 2,1.2 1,1.5 1-0.3 1,1.1 4-1.4 3,1.2 4,0.3 1-0.8 1-0.1 1,0.7 1-1.1 1,0.2 2-2 2-10.3 3-32.8 1-6.3 1,0.8 1,6.1 4,36.6 1,4.8 1,2 2,1.8 2-0.5 2,1.1 1-0.8 2,0.6 1-0.4 1-2.3 1-4.6 3-28.1 1,3.3 2,21.4 1,5.4 1-1.6 1-8.5 2-29.3 1-3.8 3,36.3 1,6.9 1-1.5 1-8.6 1-22.1 2-80.4 1-24 1,2.7 2,81.8 2,48 1,6.2 2,4 1-0.5 1,0.5 5-1 1,0.5 2-0.3 2,0.5 1-1 1,1 1-1 1,1 1,0.1 2-1.4 1,0.2 2-4.5 1-0.9 1-2.2 4,7.3 2,1.1 1-0.9 1-2 1-6.1 3-40.2 1-2.8 4,46 2,5.6 2,0.9 3-1.3 1,0.8 4-0.5 1,0.4 1-0.5 1,1.4 1-1.5 2,0.8 3-2.7 2-3.5 1-0.6 2,1.3 2,3.4 2,1.8 1-0.1 1,0.7 2-2.6 1-0.1 1-2.1 1-0.1 2,1.1 4,3.8 1-0.9 2,1.1 2-0.8 1,0.2 1-0.7 1,0.5 1-1 1,0.1 1-1 1,1.9 1-0.2 2,0.7 3-0.7 2,0.7 2,0 1-0.6 1,1 1-0.6 1,0.5 1-1 2,0.6 1-0.2 1,1.1 2-1.1 1,0.3 1-0.7 1,0.5 3-0.5 2,0.3 1-1 4-17.2 2,3.9 1,7.2 1,3.8 1,1.8 2,1.9 3,0.1 2-0.5 1-1.1 3,1.1 1-0.4 1,0.4 2-1.2 2-2.4 3,2 1,1.7 1,0.3 1-0.2 1,0.5 2-0.3 2,0.5 1-0.3 1,0.9 1-1.3 1,0.5 1-0.9 2,1.7 4-2 1-1 1-3.3 1-0.9 1-3.1 1-0.4 1,0.2 1,3.2 2,3.9 1,0.8 5,0.7 1,0.7 1-0.6 1,1.4 2-0.8 4,0.7 1-0.5 5,0.2 3-1.9 1,0 2,1.6 1-0.2 1,0.7 1-1 1,0.2 2-3.2 1-0.1 2-1.7 4,4.2 2,0.9 2-2.8 1-0.3 1-1.7 2,0.3 1,0.8 4,4.4 5,0.1 1-0.5 3,0 1,0.6 2-0.5 2,0.6 2-0.6 1,0.6 3-2 5-0.2 2-2.6 1-2.2 2-7 1,1.4 1,3 2,7.9 1,1.2 1-0.3 1,1 2,0 2-1 2-2.4 3-8.9 2,0.8 2,6.7 2,3.6 1,1 1-0.4 1,0.7 1-0.5 1,1 1-1.6 1,1.1 1-0.8 1,0.3 2-0.6 3-12.9 1-1.2 3,10.1 1,2.1 2,1.9 1,0 1,1 3-0.3 1,0.6 1-0.4 1,0.4 1-0.6 2,0.6 1-0.5 1,0.9 4-1.6 1-2.1 4-20.2 1-2.3 4,20.7 1,2.8 2,2.4 3-0.9 1,0.9 1,0 4-0.8 2-3.2 1-0.8 1,1.7 1,0.2 2,2.2 3,0.6 5-0.4 1,0.6 5-0.2 1-0.5 2,0.3 2-0.5 2-1.3 1,0.3 2-0.2 1,0.8 2-0.1 3-4.2 1-0.1 1,0.1 5,5.4 2-0.4 1,0.4 1-0.2 2-1.8 4-1.7 1,1.3 4,2.6 2-0.3 1,0.4 1-0.6 4,0.4 1-0.3 1,0.4 3-0.2 2-2 2-9 1-9.9 1-24.9 1-55 2-201.6 1,23.3 2,219.4 1,44.6 1,12.2 1,2.7 2-0.4 1,0.5 2-0.1 1-0.5 1,0.7 1-0.3 3-2.4 2-2.3 1,0 3,3.5 2,1.1 2-0.3 2-3.8 1-3.2 1-0.9 2,3.4 1,0.6 3-2.2 1-0.2 1,0.6 1,1.7 1,0 2-1.8 1,0.4 2,3.6 3-2.1 1-0.2 1,0.4 3,3.1 3,1.2 2-0.4 1,0.7 3-0.6 1,0.4 3-0.4 3-2.2 3,2 2,0.5 3-1.4 2-4.7 5-35.7 1,0.4 2,10.7 2,18.1 1,5.7 2,6 1,0.2 1,1.2 1-0.6 4,0 3-1.1 2-6 1-7.7 4-64.1 1-3.6 1,0.7 1,9.4 3,52.7 1,10.2 1,4.8 1,2 1-0.1 1-2.1 2-1.5 1,2.8 2,3.1 4,0.7 2-0.1 1-0.6 3-3.7 1-3.7 3-17.9 1-2.1 1-0.2 1,2.3 3,18.5 1,3.8 1,2 2,1.1 2,0.3 1,0 1-0.7 1,0.5 1-0.6 2,0.8 2-0.5 2,1.1 2-0.9 7,0 2,0.4 1-0.9 1-1.3 1-3 1-5.9 3-34.8 1-18.5 2-14 2,19.1 2,32.1 2,16.5 1,2.2 1-5.5 3-31.4 1-7.3 2-9.2 3,17.8 2,24.2 3,16.2 1,0.5 2-0.5 2-5.3 2-2.9 2,2.4 3,6.3 1,0.3 1,1.9 2-1.3 2-3.4 2-6.7 6-41 1,2.9 1-7.2 1,8.5 1,0.6 4,29.1 1,2.5 1-2 1-4.7 2-18.2 3-61.2 3-48.4 1,3.6 1,1.6 3,47.9 2,43.3 2,29 1,7.9 1,4.7 1-0.9 2-7.7 1-1.5 3,14.6 1,0.1 1,2 1-0.3 3,4.8 2,0.9 2-0.1 1,0.8 2-0.5 2,0.6 1-1.4 2,1 2,0 1,1.1 1-1.3 1,1 1-1.5 1,0.7 1-1 1,0.7 1-0.8 1-2.1 2-1.1 3,3.4 3,1.3 4-1.7 1,0.7 1-1.3 1,0.9 1-0.6 1,1 1,0.3 1,0.2 1-0.4 1,1 2-0.9 1,0.5 5-0.6 1,1.2 1-1 2,0.4 1-0.3 2,0.6 1-0.6 4,0.2 4-2.7 1-0.2 2,1 2-0.6 1,0.6 2-3.1 1-2.6 1-1 1-3.9 2-4.8 1-1 2-0.8 3,5.1 2,5.8 3,5.3 2,1.8 1-0.5 1,1.4 1-0.6 1,1.2 2-0.4 2-1.6 1,1 2,0.9 1-0.3 1-1.1 1,1 1-1 1,0.5 2-2.8 1-0.6 4-12.1 1-1 1,0 1,1.3 1-1 2,4.3 1,1 1-1.6 2-0.3 4,9.7 1-1 1-2.5 2-9.6 1-2.3 1,1 4,15.4 1,1.5 2,1.8 1-1.1 1,0.5 1-0.6 1,0.1 2,1 3-0.8 2,0.4 2-0.8 1,0.8 1-0.5 1,0.3 1-0.7 3,0.8 2-0.7 2,0.8 1-0.6 1,0 1,0.7 1-1 1,0.6 2-0.1 1-0.5 1,0.8 2-0.9 1,1 1-1.4 1,0.9 1-0.5 2,0.9 2,0.1 3-0.7 1,0.9 2-1.1 2,0.6 1-1.1 1,0.7 3-2.2 2-0.2 1,0.5 1-0.5 1,1 1-0.3 1,1.2 1-0.2 1,0.9 2-0.1 1-1.2 1-2.8 2-15.4 3-48.9 1,3.7 4,58.2 1,4.2 1,1.6 1,0.6 2,0.4 1-0.9 1,0.8 1,0 1-0.7 2,0.8 2-0.8 3,1 2-1.3 1,0.7 1-0.3 1,1 1-1.1 1-0.1 1,0.9 1-0.6 2,0.5 3-0.9 2,1.5 1-1.5 1,0.8 1-1.1 1,1.1 3-0.4 1,0.5 2-0.4 1,0.4 2-1 1,0.8 2,0.3 4-0.7 1,0.9 2-1.5 1-2.8 3-18 1,0.3 1,3.6 1,7.8 2,6.6 2,3.7 1-0.3 1,0.6 1-0.8 1,1 7-0.5 2,0.8 2-0.9 4,0.5 2-0.1 1-0.7 1,0.8 1-0.9 1,0.8 1-0.5 1,1 5-0.2 2,0.8 1-0.7 2,0.9 2-0.1 4,1.3 4,0.3 38,0.2" stroke="#ff7f0e"/><path d="M291,574.3l2-2.4 2-5.4 1,0.6 2,5.6 2,1.7 12,0.3 4-0.4 1,0.5 4-0.4 11,0.1 2,0.4 2-0.3 7,0 1-0.7 1-2.5 3-16.4 1,1.9 2,13.8 1,3.1 2,1.2 2-0.2 1-0.7 1-2.4 1-6.3 1-14.8 3-111.5 2-39 2,13.9 1-26.2 2,8.4 1-28.4 1,46.8 1-13.2 1,12.9 1-1.8 1,11.2 1,24.9 1-11.7 1,3.7 3,24.3 1-5.5 2,21.1 1,4.3 1,1.2 1-3.4 1,11.6 4,22.4 1-7.9 1,1.2 1,7.8 1-5.3 1,12.3 1,0.4 1,3.9 1,1 1-0.9 1,0.1 1,2.3 1-4.2 1,9.6 1-2.3 2,4.2 1,4 1-4.8 1,8.5 1-4.3 2,2.7 1-2.6 1-0.5 1-2.4 1,0.8 1-2.2 1-8.1 1,2.8 1-2.9 2,2.3 1-3 1,2.2 1-0.4 1,3.5 1-2.9 1,0.9 1,4.8 1,1.4 2,11.8 1,3.4 2,3.4 1,4.1 1-0.6 1,0.1 1,3 1,0 1,1.4 1-1 2,0.3 1,1.4 1-1.6 2,1.9 1-0.3 2,0.5 1,1.2 1-1.5 2,2.2 1-1.1 1,0.9 1-1.2 1,1.2 2,0.6 1-0.6 1,0.2 2,1.8 1-1.2 1,0.4 2-0.6 1,0.6 2-0.4 2,0.9 3-0.4 1,0.6 1-0.4 1,1.3 1-1.1 3,0.7 3-0.7 2,1 7,0.9 3-0.7 1,0.6 5-0.2 2-0.5 1-1.3 2-4.9 1-4.5 3-24.6 2-23.4 2-13 1,0.1 2,13.2 3,31.8 2,15.8 1,4.4 2,5.4 2,1.6 5-3.1 3,2.8 2,1 1-0.2 2,1.1 2-0.7 2,0.6 5,0.1 1-0.5 7,0.6 3-1 1-1 1-3.3 2-14 4-61.3 1-7.7 1,5.1 1,11 3,46.2 2,18.6 1,1.4 2-2.7 1,1.4 2,6.1 1,0.8 1-0.5 1-1.9 1-6.8 3-54 1-2.7 3,53.1 1,7.7 1,1.8 1-2.4 2-10.2 1-1.5 1,0.5 3,13.1 1-1.6 1-4.8 1-13.5 3-52.7 1,1 1,6.5 1,17 7,47.2 2,4.1 2,0.8 3,0.4 1-0.5 5,0.7 1-0.6 1,0.4 1-0.4 4,0.5 5-0.6 2,0.5 2-0.3 2-3.4 1-5.8 2-19.4 1-4 1-0.5 3,25.2 1,4.5 1,2.6 1,0.8 4,0.2 3-0.9 1-0.4 1-1.7 2-1.2 2,1 1,1.5 1,0 1,1.1 1-0.4 1,0.4 2-2.3 3-1.1 4,3.2 4,1.1 1-1.3 1,0.6 6-4 2,1.6 1,0.1 1,1.2 5,0.9 2-3 2-1.7 1,0.2 1,2.2 3,2.3 4-0.1 3,0.6 1-0.6 4,0.4 4-0.3 1-1.2 1-4.8 3-34.6 1,3.1 2,26.6 1,6.9 1,2.6 1,1 1-0.7 2,0.1 3,1.2 1-0.9 1-1.2 2-8.1 1-1.7 1,0.5 2,7.3 1,1.8 2,1.9 1,0.1 1-0.7 1-2.1 3-14.1 1-2.9 1,0.9 1,2.9 2,12 1,2.4 2,2.1 6,0 3-0.4 3,0.3 2-0.5 2,0.2 1,0.7 2-0.9 2,0.8 2,0 1-0.6 3,0.5 6-0.4 1,0.5 1-0.5 1,0.5 6-1.1 4,0.8 1-0.3 1,0.5 9-0.3 1,0.8 1-1.1 1,0.5 2-0.2 1,0.3 1-0.5 1,0.4 2-1.8 1-2.9 5-33.6 1,1.3 4,31.1 1,3.2 2,2.9 2-0.4 1,0.9 1-0.8 3,0.5 3-0.3 1,0.5 2-0.7 1-1.4 1-2.5 3-21.6 1-3.6 4,23.6 1,2.3 2,2 3,1.3 1-0.1 1,1 1-1 1,0.8 1-0.7 1,0.6 3-0.4 1-0.6 1,0.2 3-3.5 4-2.6 2,0.7 2,3 2-2 2-3.9 1-0.2 1,0.2 3,6.4 1,1.3 2,1.4 4-0.5 6,0.7 13-0.4 2-2.8 2-5.5 1-0.6 1,0.4 3,7 1,1.3 1,0.4 1-0.3 4,0.7 6-0.6 5-5.8 1-0.1 1-0.8 3,1.3 2,2.8 3,2.5 1,0.4 1-0.4 5,0.5 2-1.2 2-4.5 3-17.4 1-3.2 1,2.8 2,13.4 2,7.2 1-0.3 2-3.1 1-0.2 1,0.9 2,3.7 3,1.8 2,0.2 1-0.5 1,0 3-1.9 1-1.5 2-0.6 2,1.3 1,1.5 3,1.5 8,0.3 2-0.3 1-0.7 2-4.9 2-12.2 3-26.4 1-0.8 2,11.9 3,26.2 1,4.1 2,2.5 1,0.4 3-0.1 1-0.6 1-1.4 1-2.8 4-26.3 1-3.2 2,7.9 3,17.4 2,6.3 1,1.7 1,0.6 2,0.6 2-0.6 1,0.8 2-0.6 1,0.4 1-0.5 2,0.4 2-0.4 1,0.4 3-0.2 1-1 3-0.6 3,0.1 4,1.4 1-0.5 2-2.3 1-0.4 3,3.1 3-0.2 1,0.7 1-0.5 3-0.1 4,0.5 1-0.8 1,0.1 1-1.4 1-1.4 1-3.3 2-10.3 3-25.7 1-3.3 1-0.2 1,0.5 1,6.5 3,27 2,8.9 1,1.9 1,0.7 3,0.4 5-0.2 2-1.8 4-6.9 2-1.2 7,9.5 2-0.2 2,0.7 1-0.5 4,0.6 3-0.4 1,0.4 2-2 1-2.4 2-13.1 3-30.8 1-5.3 2,10.5 3,30.5 2,9.5 2,2.4 2,0.8 1-0.6 5,0.5 1-0.8 3,0.3 1-0.4 4-3.5 2-0.3 1,0.4 2,2.9 2,1 1-0.7 1,0 2-2.3 3-8.7 1-4.5 1-1.1 1-3 2,2.9 2,6.3 2,4.5 1-0.4 2-3.4 4-12.8 1,4.2 2,2.9 2,9.2 2,4.7 2,1.3 1-0.3 5-14.8 1,0.1 2,4.2 2,7.5 2,3.2 1,0.2 3-2.1 2-6.3 1-5.2 3-25.4 1-15.3 3-20.7 1,3.7 1-0.8 1,1.9 1,14.2 3,27.2 2,11 1,2.1 1-0.5 1-2.6 1-3.7 2-12.6 3-7.6 1,4.2 1,1.8 2,8.9 3,17.6 2,6.6 3,3.6 2-0.4 2-1.7 1-1 2-4.1 2-1.9 3,3 1,3.2 2,1.5 1,1.9 5-0.2 1,0.7 1-0.7 2,0.5 3-0.7 1,0.3 2-0.9 2-6 1-0.9 1,0.7 3,6.5 2,0.9 2-0.2 1,0.5 2,0 3-0.5 5,0.7 3-0.5 1,0.4 1-0.5 2,0.7 2-0.9 5,0.7 3-0.3 2-1.6 1-2.3 2,0 2,3 1,0.6 5,0.6 3-1.8 2-3.7 4-12 1-4.9 2-3.7 1,0.5 1,3.2 1-0.3 2,3 4,15.3 1,2.6 1,1.3 10,0.8 3-0.5 1,0.3 2-0.6 1-0.8 2-4.1 4-22.8 2-7.1 1,0.4 1,2.9 1-0.8 1,0.6 2-12.6 2-4.5 1,5.7 3,31.2 1,5.2 3-1.6 1,0.6 3,6.1 2,2.2 5,0.2 2-0.5 1,0.8 7-0.7 2,0.7 16-0.4 1,0.4 3-0.1 1-0.6 1,0.6 5-0.3 3,0.5 1-0.4 5,0.5 3-0.4 5-2.6 3,1.2 1,0.9 3,0.5 2-0.3 1-1.1 1-3.4 1-9 1-21.2 3-100.5 1-5.1 1,20.7 1,46 2,56.1 1,11.8 2,6 15-0.1 1,0.3 3-0.4 5,0.3 2-0.5 11,0.6 3-0.5 4,0.1 1-0.4 4,0.7 4-0.2 4-1.2 3,1.2 3,0.2 4-0.6 3,0.5 2-0.7 7,0.7 2-0.6 1,0.5 4,0.1 3-0.4 3,0.5 2-0.7 1,0.7 5,0 3,0.6 2-0.3 3,0.6 40,0.2" stroke="#2ca02c"/><path d="M291,572l3-7.1 2,3 1,2.9 3,2.2 7-0.2 1,0.6 1-0.8 1,0.8 3-0.7 3,0.6 3-0.4 3,0.6 2-0.4 3,0.5 1-0.3 9,0.1 6,0.7 2-2.2 2-13 1-2 3,15.8 1,1.4 1-0.4 2,0.2 1-0.4 1-1.8 1-6.5 1-13.1 1-25.3 3-157.2 1-31.3 1,26.7 1-20.7 1,35 1-35.7 2,10 1,0.5 1-6 1,5.7 1-22 1,51.9 1,15.1 1,0.8 1-0.6 2,36.1 1-6 1,30.2 1-9.1 1-3.2 1,8.2 1,16.9 2-5.7 1,14.2 1,2.3 1,18.1 1,3.6 1-5.3 1,6.8 1-10.5 2,15.1 1-5.2 1,11.2 1-3.6 1,0.4 1,7.6 2,6.4 1-0.1 1-1.7 1,5.5 2,5.1 1,0.5 1-0.8 1-2 1-0.2 1,1.5 1-1.6 1,1.2 1-6.2 1,2.7 2-10.3 1,1.8 1-2.7 1,0.9 1,0 2-4.2 4,3.9 1,2.8 1-1 2,12.4 3,12 2,4.7 1-1.3 1,4.5 1,0.3 1,1.2 1-1 1,3.7 3-0.3 1-1.5 2,4.5 1,0.1 1-2.1 1,1.3 1,0.3 2-1.2 1,1.3 1-1.8 2,4.1 2-2.5 1,2.8 1-0.9 1,0.6 1-0.8 1,0.6 1,2.3 1-1.1 1-2.9 1,2.4 1,0.6 1-1.9 1,1.4 1-1.6 2,2.2 1-1.2 1,0 1,2.5 1-1.5 2,0.8 1-0.7 1,1.8 2-2.6 1,2.2 1,0.7 1-2.2 1,1.1 2-0.4 2,0.8 1,0.9 1-1.1 1,1 2-2 2,1.5 1-0.2 1,1 1-1.5 3,1.9 2-0.7 3-6.3 1-4 4-20.2 1-9.4 1,5 1-2.2 2,6.8 1,7.5 4,18.5 1,0.7 1,2.7 2,1.8 1-1 1,0.8 1-1.2 2,2.1 1-2.3 1,1.4 1-1 1,1.3 3-1.4 1,0.4 1,1.3 1-1.1 3,0.2 1,0.6 1-0.9 2,0.6 1,1.1 3-2.3 1,0.7 2-0.1 1,1.3 1-1.2 3,0.3 4-14.6 1-11.1 2-8.8 1-1.1 2,7.5 2,15 2,9.2 1,2.3 1,0 1,2.1 1-1.6 1,0.7 1,0 1-0.7 2,1.1 2-0.7 1,0.2 2-3.5 2-7.3 2,1.8 1,4.2 2,1 1-1.5 3-14.9 2,3.7 2,11.4 1,0.8 1-5 1-17.1 4-122.8 1,8 1,20.4 3,97.6 1,14.5 1,6.3 2,1.6 1-0.3 1-1.5 1,0.1 1,1.9 1,0.1 1,1.4 1-1.3 1,0.3 1,1.8 1-1.3 1,0.4 1-3 1,2.5 1-0.8 1,1.1 1-0.5 1,0.3 1-1.2 1,1.8 2-1.3 1,1.4 1,0.3 1-2.3 3,2.1 1-2.2 2,1.3 1,1.6 1-3.2 2-0.2 2-1.5 1,1.6 2,0.8 2,1.5 1-0.4 1-2.6 1,2.1 2,0.3 1-1.2 1,1.8 1,0 1-1.5 1,0.9 3-1.2 1,2.3 1-1.6 1,1.4 1-1.7 1-0.7 2-5.8 2-16.2 1-2.6 1-0.2 5,25.1 1-1.6 1,1.2 1,0.4 1,1.6 1,0.5 1-2.2 1,2.8 1-1.4 1-0.2 1,0.1 1,0.8 1-2.3 1,0.1 1,2.4 1-0.1 2-2 1,1 1-0.3 2-2.9 2-1 1,1.7 1-1.2 1,3.4 1-0.7 1,1.4 1,0.5 2-2 1,2.2 3-1.7 1,1.4 1,0.3 1-0.8 1,0.3 1,1 1-1.4 1,0.7 1-0.6 1,1.6 1-1.4 2,0.6 1-0.8 1,0.4 1-1.6 1,0.3 3-6.1 2,3.1 1,3 1-1.1 1,1.3 1-0.1 1,1.7 2-2.5 2-1.2 2-4.2 1,1.5 1,0.2 3,5.3 1-0.4 2,0.9 3-6.3 1-6.2 2-5 2,6.5 1,1.4 1,5.2 1,2.4 1,1.3 1-0.8 1,2.4 1,0.2 2-1.3 2,1.3 1-1.4 1,0.9 2-1.3 1,1.4 1-0.5 2,0.1 1-1 2-0.5 1,0.3 2-0.5 1,2.6 2-0.3 1-1 1,1.4 2-1.5 1,1.6 1-1 1,1.8 1-1.2 1,0 1-1.1 1,1.2 1-0.9 1,0 2,0.9 1-0.2 1,0.9 1-1.9 2,0.9 1,1 1-1.1 1,0.7 1-0.7 3,1.3 1-1.2 5,0.9 2-1.7 1,0.3 1,2.4 1-1.5 1-0.4 1,0.6 1-0.8 1-2.7 3-23.4 1-13.8 1-6 1-3 1,4.7 3,32.9 2,9.6 2,3.4 1-1.8 1,0.8 1-0.7 1,0.2 2-1.9 1,1.7 1,0.1 1,1.5 1-0.8 2-0.5 3,0.5 1,1.4 1-0.4 1-2.2 1,0.6 1-0.7 1,1.9 1-1.2 1-0.2 1-2.2 1-2.6 1-6 2-5 2,5.4 2,9.1 2,1.1 1-1.2 1,0.1 1-1.8 2-1.7 1,0.8 2,0.2 1,0.8 2-0.3 1,1.7 3,3.3 3-0.2 2,1.3 3-1.8 1,1.3 1-0.9 3-0.7 2,1.4 1-0.9 1,1.4 1-1.3 1-0.1 1,1.2 1-1.5 3,0.6 1,0.8 2-0.6 3,1 1-1.2 2,0.2 1,0.9 1-1 1,0.8 1-1.1 1,0.7 1-0.3 1-1 1-0.2 1,0.4 1-0.7 2,1.5 2-1.4 1,1.8 1-0.5 1,0.7 1-1 3-0.3 3,1.2 1-1.2 1-0.1 1-1.1 2-4.9 1-4 1-1.4 1,1.7 2,6.3 1,1.7 2,2.2 1,0.1 1,0.8 1-1 1-0.1 1,0.8 1-1.4 1,1 2,0.1 2-0.4 1,0.8 1-0.7 2-0.1 3-4.5 1-3 1-0.1 1,0.2 2,2 1,2.9 1,1.2 1,0.9 2,0.3 1,0.9 1-0.6 1,0.2 1-0.7 1-1.7 1-2.1 2-9.9 2-3.5 1,1.6 2,8 3,4 1-0.1 1,1.8 1,0 1,2 1-2.2 1,1.7 2,0.1 1,0.7 1-0.7 1-0.1 1,0.8 1-1.4 1,0.2 1,1.8 1-1.5 2,0.3 1-0.8 1-2.1 1-3.5 1-10.6 1-22.5 3-147.7 1-7.3 3,139.1 1,23.1 1,15 1,8.3 1,4.2 1,3.4 1,1.5 1-1.8 2,2.9 2-1.7 2,0.4 1-0.7 1,1.3 1-1.3 3-0.5 1,1.2 2,0.5 1-1.2 1,0 1-1.6 1,2.3 5-0.4 2,0.7 2-1.2 1-1.9 1,1.5 2-0.9 1,0.9 1-1.1 1,0.7 1-3.7 1-0.6 1-3.1 1-0.2 1-2.1 1,2.7 1,0.9 1,1.8 1,3 1-0.6 1,1.9 1,0.2 1-0.9 3,2 1-1.1 5,0.9 1-1.3 2,0.9 1-2.2 2,2.6 2-0.9 1-1 2,1.7 1-3.4 1-0.9 2-6.9 1-5.4 1-13.1 2-11.6 1-2.7 1-0.2 1,4.1 3,20.6 1,2.3 1,0.1 2,10 1,2.6 1,1.9 1,0.3 1,1.3 2-0.5 1,0.5 1-2 1-0.1 2-4.3 4-17.8 2,2.2 1,4.5 1,2 1,0.6 1-2 3,1.1 2,10.2 1,0.6 1,3.2 1-0.1 1,1.8 2-1.4 3,1.2 2-0.8 1-1.4 2-1.4 1-2.5 1-5.2 4-29.4 2,4.3 3,26.6 2,6.4 1,0.9 1,0.1 3,2 1,1.3 1-1.9 1,0.4 1-0.9 2,1.8 1-0.9 1,0.4 1-1.4 1,0.7 2-0.4 1-2.1 3,2.8 1-1.8 1,2.1 2-1.8 1,1.2 1,0 3-4 2-7 1-6 2-4.2 2,3.1 1,5.1 3,8.8 2-3.9 1-3.9 4-33.7 1,3.3 1-0.9 2,17.3 2,9.6 1-0.6 1-2.6 1-1 1,1.4 1-1.2 1,1.9 1-0.6 2-5.7 2,2.6 1-0.1 1,7.6 2,8.5 1-0.5 1,1.7 3,3.2 1-1.1 1-3 3-13 2-11.8 1-4 2-4.5 1,1.5 1,0.2 1,3.1 2,14 2,8.8 1-1.5 1,0.6 1-3.3 1-7.1 3-48.3 2-49.1 2-36.1 1-4.8 1,12.7 1-0.8 1,13.3 3,74.9 3,41.8 1,4.7 1-0.9 1-3.8 2,2.5 1,7.9 1,3.8 1,1.5 1,3.1 1-4.7 3,4 2,1.5 1-0.2 1,1.9 1-0.2 1-1.1 1,0.9 2,0.4 1-1.3 1,1.5 2-0.2 1,0.5 1-1.1 1-0.2 1,1.6 2-0.7 1,1.1 1-0.2 1-1 2,0.8 1-1.1 1,0.5 1-0.4 1,1.1 1-0.8 1,1 1-0.7 1,0.3 1-0.5 1,1.3 1-1.7 1,1.1 1-1.5 1,0.6 1-0.7 1-4.4 2-16 1-0.5 1,1.5 1,10.4 1,5.3 2,4.3 1,0 1,0.9 1-2 1,0.2 1-0.7 1,0.9 1-0.5 1,1.7 1-0.2 1,1.5 1,0.2 2-2.3 1,1.1 1-0.6 1,0 1,1.5 1-1.4 2,0.3 1-1.9 2,1.2 2-1.7 4-17.7 5-47.6 1,1.2 1-4.4 2,9.2 5,47.9 3,11.5 2,3.1 1,0.5 3-1.3 1,1.2 1,0.4 2-0.8 2,0.6 1-1.2 1,1.4 3-1.8 1-1.1 2-6.2 4-18.6 1-1.7 1-0.4 4,12.3 1-1.6 2-13.5 1-1.4 2,11.3 1,10.5 2,9.5 1,0.2 1-2.4 3-2.3 3,6.5 1-0.2 1,0.6 1-0.5 1-1.4 1-2.7 3-3 1,0.5 1,3.8 2,3.7 3-0.9 1,0.8 1-0.1 1-1 1,1.1 2-0.1 1-0.7 2-5.6 1-0.2 1-1.7 1,2.7 1-1.6 1-0.6 2,2.1 1,2.4 1-5.3 1,2 1,0 1-1.8 1,2.5 1-3.4 2,3.7 1-2.7 1,4.2 1-5.7 1,2.4 1-0.3 1,1.6 1-0.2 2-1.8 1,1.5 2-1 1,0.3 1-1.6 1,1.7 2-4 1,6.5 1-5 1,0.6 2-2.3 1,2.6 1-1.1 2,2.4 1,0.5 1,2.8 1-4 1,0.2 1,2 4-8.6 3-24.7 2-2.2 3,27.8 1,0.6 1,6.4 1-4 1,5 1-3.5 1,2.7 1-2.5 2,0 1,2.2 1-1.6 1,3 2-5 1-0.4 1,2.7 1-2.6 1,3.3 1-0.6 1,0.5 2-1.2 1,0.8 1-2 1,0.3 1-0.8 1,4.1 3-4.2 3,4.3 1-3.6 1-1.3 1,2.9 1-1.8 1,0 1,1.3 1-1.7 1,0.3 1,1 1,5.2 1-4.9 2-4.4 1,4.3 1-0.6 1,6 1-0.2 3,2 4-0.5 1-1.3 1,0 1,1.4 2-0.7 1,2.4 1-2.4 1,1 1-1.3 1,0.7 1-0.9 1,1.3 1-2 2,2.3 2-2.5 1,2 2-0.9 1,0.8 1,0.2 5-1.4 2,1.3 1-1.5 2,0.8 1-1 1,1.9 1-1.4 1,2.1 1-2.1 1-0.1 1,2.5 1-1.1 1-0.3 1-0.2 1,1 1-0.7 3,2.3 1-0.3 1,0.7 2-0.3 2,1.5 1,0.6 1-0.1 1,0.9 1-0.5 2,0.4 2-0.8 1,1 1-0.7 3,0.8 1-0.5 2-0.1 6,0.6 6-0.6 1,0.6 3,0.3 1-0.4 8-0.2" stroke="#d62728"/><path d="M291,569.8l1-5 1-2.8 1-1.5 3,11.2 1,1.2 2,0.7 1-0.5 2,0.8 1-0.6 3,0.5 4-0.4 3,0.4 3-0.3 1,0.6 7-0.6 2,0.4 5-0.4 2,0.4 5-0.2 1,0.4 4-0.5 1-3.9 2-21.7 1-4.4 2,22 1,6.6 1,1.6 3,0.7 3-0.3 2-1.8 1-5 1-13.1 3-107.5 1-9.9 1-19.7 1,2.4 1-2.2 1,1.7 1-1.4 1-26.6 1,37.1 1,11.2 1-11.6 2,16.3 1,0.7 1-6.7 1,16.4 1-3.5 1,14.7 1-11.8 1,18.5 2,13.6 1-1.8 1,5.5 2,3.7 1,16.8 1-10.5 1,11.6 1-9 1,6.4 1-2.6 1,8.4 2,8 1-3.7 1-1.6 2,11 1,0.3 1,4.1 1-7.7 1,8.4 1-2.8 1,3.1 1-1 1-2.7 1,6.3 1,0 2,3.3 1-9.2 1,4.5 1-7 1,2 2-5.5 1,2.3 2-7.2 3,4.1 1-1 1,5.7 1-4.6 2,4.6 1,1.1 1,2.9 1,6.8 3,13.6 1,0.2 2,4.8 2-0.4 2,1 2,2.5 1,0.1 1-0.4 1,0.8 1-0.9 2,0.6 1-1.2 1,1.7 3,1 3-0.2 1,0.5 1-0.1 1,2.6 1-0.4 1-1.7 1,1.7 1-1.7 1,0.9 1,2.6 1-1 1,0.2 1-1.1 2,0.9 1,1.4 1-1.3 1,1.1 1-0.8 1,0.1 1-0.7 1,1.2 1,0.2 1-1.4 1,2.2 2,0.1 1-1.3 1,1 1,0.2 1-1.2 1,1.7 1,0.4 1-1.4 1,1.3 1-1.1 1,0.6 3,0.2 1,1 1-0.3 1-1.1 1,0.3 1,1.3 1-1.2 1,0.8 1-0.9 1,1.3 1-1.5 1,0.4 1-0.9 3-4.7 4-15 2-5.3 1,0.8 2,5.6 2,9.3 3,8.9 1-0.2 1,2.4 2,1.2 1-0.6 2,0.4 2-1.1 2,2 1-1.3 1,0.8 1-0.6 1,0.7 3-5.1 2-7.2 1-1.7 1-0.7 1,0.4 1,2.1 2,7.1 2,3.6 1,1 3,0.9 3-0.5 1,0.6 2-1 2-3.3 2-9 2-15.8 2-5.3 1,2 3,20.6 1,4.8 1,2.4 1,0.5 2,2.7 3,1.9 3-3.5 1-2.3 4-3.8 2-7 1-0.9 3,12.8 1-0.2 1-5 1-13.1 2-36.4 1,4.2 1,10.4 2,32.7 1,8 1,1.5 1-0.9 1-4.4 4-29 1,2 1,10.1 3,19.8 1,3.2 1,1.4 3,0.9 1-0.5 1,0.5 3-0.5 1,0.5 3-0.7 1,1.1 1,0.1 2-1.1 1,0.8 1-0.6 2,0.6 4,0.1 1-0.9 1,1 1-0.1 1-0.8 1,0.2 2-1.8 1-2.7 2-9.4 2-4.4 2,6.4 1,5.5 2,5.8 3,1.5 2-1.3 3-3.8 1-3.1 1,0.6 2-1.1 2,5 1,1.2 2,1.7 2-1.2 2-4.6 2-7.6 1-2 1-0.4 2,4.6 1,5.1 2,4.4 4,2.3 2-0.6 2,0.2 4-4.6 2,1.4 1,1.7 2,1.7 3-0.4 1-1.5 2-0.9 1,0.1 2,2.2 3,0.9 3-0.5 1,0.6 2-0.6 1,0.5 2-0.4 1,0.4 2-0.7 4,0.1 1,0.5 1-0.4 1,0.8 3-2 1-1.4 1-2.8 1-0.8 1,0.4 3,5.6 1-0.3 2,0.6 1-0.4 2,0.9 1-0.4 2,0.3 2-0.6 3,0.4 1,0.5 1-1 1,0.3 3-4.5 2-1.9 3,5.1 3,2.2 1-0.8 1,0.6 2-0.8 2,0.6 2-0.6 2,0.3 2-0.3 1,0.5 1-0.5 1,0.4 1-0.4 1,0.5 1-0.7 1,0.5 1-0.3 4,0.7 5-1.4 1-0.9 1,0.3 1,1.1 4,0.5 5-0.4 2,0.8 1-1.4 1,0.8 1-0.6 2,0.6 2-0.3 6,0.5 1-0.7 1,0.7 1-0.7 5-0.1 2-1.2 1,0 1-1.8 2-6.9 2-10 1,1.8 1-0.6 3,13.6 2,4.7 2,0.8 3-0.4 2,1.3 4-2.1 2-3.7 4-19.4 2-1.3 1,0.3 4,18.2 2,5 2,1.4 2,0.6 1-0.3 1,0.5 2-0.7 1,0.6 1-1.3 1,0.8 4,0.5 1-0.8 1-0.1 2-3 3-2.5 1,1.9 2,1.6 1,1.9 1,0.5 2,0.3 2-1.2 1,0.9 2-0.5 1,0.9 2-0.2 1,0.7 1-1.6 2,0.7 3-0.5 2,0.7 1-0.7 1,0.1 1-2.7 2-2.8 2-5 1-0.3 1,0.6 2,3.6 1-0.2 1,0.6 2-3.8 1-1 2-4 1-4.2 3-22.7 1-2.7 4,41.6 2,3 1,0.1 1-1.2 4,1.2 1-0.2 1-1.9 1-3.2 1-6.7 2-25.3 1-4.4 1-0.6 3,15.8 3,22.4 2,3.2 3,0.2 1,1.6 1-1.3 1,0.4 1-0.6 1,1.1 1-1.2 1,0.5 1-0.4 2,0.6 1-1.1 2-0.5 1-1.2 1-0.3 3,0.8 1,1.4 3,0.3 1-0.4 3,0.5 3-0.3 3,1.1 3-4.8 2-7.8 1-2.3 1,1 2,6.7 2,4.8 1,0.9 1,0 1-0.6 1,0.8 2-2.3 3-5.9 1,0.1 1,2.8 2,3.3 2-0.8 1-2.2 2-21.2 4-124.7 1-13.2 1,8.1 4,125.8 2,22.8 1,3.1 1,0.3 1,1.8 1,0 1-0.8 1,1.1 2-2.8 4-15.5 1,0 1,0.7 1,1.6 2,10.8 2,5.1 1,1.3 2,0.8 1,1.2 1-1.8 1,0.2 2-4.2 2-8.4 1,1.1 2,8.8 2,3.4 1-0.4 1,0.4 1-0.4 1,0.8 1-1.1 2-0.1 1-1.8 1,1.1 1-0.6 1,1.3 1,0.4 1-0.8 2,1.5 2-0.3 1-1.5 2,1.7 1-0.4 2,0.9 1-1.4 1-0.2 1,1.3 2-1.2 1,1 1-1.1 1,1.2 1-0.9 1,1 1-1.2 1,1 1-0.6 1,0.2 2-1.6 1-2.6 4-33.1 1-14.2 1-2.6 1,3 3,33.5 1,6.4 2,8.4 1,0 1,1.9 1-0.6 2,1.6 2-0.5 2,0.3 2-5.5 3-19.3 2-23.1 1-3.9 1,2.6 1,1.2 5,41.3 1,3.8 2,2.1 1,0.5 1-0.3 1,0.9 2,0.3 1-0.7 2,0 1-0.8 2,0.8 1-1 1-0.2 2-4.8 1-4.3 4-30.2 1-1.7 1-0.4 1,3.2 2,15 2,8.4 1,1.8 1-0.7 2,0.7 3,11.9 1,1.6 1,0.3 3-1.3 1-2.3 1,0.1 1-0.8 1,0.9 1-0.3 1,2.4 2,1.3 1,1.4 1-0.9 3,0.9 2-0.9 1-0.7 2-6.1 5-43.8 1-2.2 2,12.4 3,28.3 3,9.5 2-1.3 3-5.7 1,1 2,0 2,4.6 3,3.8 1,0.3 3-0.9 3-8.2 1-0.2 1-1.3 4,9 1,0.9 1-1 1,0.1 1-1.2 1-3.4 1-1.7 5-31.9 1-10.4 1-1.6 1-3.7 1-0.6 1,2.8 1,0.5 4,31.4 3,13.4 2-1.8 3-13.8 3-17.4 1,0 1-1.2 1,0.3 3,12.6 2,13.6 6,15.1 1,0.3 2-0.1 3-3.9 1-0.3 3,1.7 2,3.3 1-0.2 1,0.8 3-0.7 1,0.9 1-3.4 1,0.3 1-0.8 2,2.1 1-1.4 1-0.2 1,0.9 1,0.1 1-1.3 1,1 1,0.1 1-1.2 1,1.1 1-0.9 2,0.6 1-0.5 1,0.5 1-0.1 1,1.1 2-2 1,0 1,1.6 1,0.4 1-0.2 1-0.9 1,0.9 1-1 2,0.5 1-0.8 1,0.9 1-0.4 2,1 1-0.9 1,1.6 2-1.8 1,0.8 2-1.1 1,0.4 1-0.2 1,1.5 1-1.3 1,0.3 1-0.4 1,1 2-0.8 2,0.1 1,2.2 1-2.8 2,1.7 1-1.4 2,0.7 1-0.9 1,0.1 1-3.1 1-1.1 3-13.2 2-15.8 3-18.5 2,3.7 3,10.4 4,28.9 1,3.8 1,1.9 1,0.5 1,3.1 1,0.3 1-0.8 2,1.5 2,0.5 2-0.8 2,0.6 2-1.8 1,0.5 1-0.4 1,0.7 1-0.9 1-1.3 1-3.6 3-6.9 2-9 1,0.6 1-2.1 3,7.8 1,4 1-1.2 2-11.1 2-22.8 1-3.1 1,1.9 2,19.9 2,14.4 1,3.2 1,0.5 1,3.4 3,5.2 1,0.7 2-0.8 1,1.9 1-1.7 1,0.4 1,1.2 1-1.8 1,0.7 1-0.7 1,2 1-1 1,0.6 2-0.4 1,1.5 3-2.9 1,0.9 1-0.7 1,1.8 1-1.4 2,0.8 1-0.5 1,1.7 2-2.8 1,1.9 1,0.1 4-2.1 1,1.2 2-0.1 1,1.1 1-0.7 1,1.3 1-2.7 1,2 1-1.8 1,1.5 1-0.1 1,0.9 2-0.6 1,0.5 1-0.1 1,2.3 2-0.6 1,0.6 1-1.8 1,0.6 1-2.1 4-12.4 1,0.6 1,2.4 2,8.2 1,2.1 1,1.2 2,1.2 1-0.8 1,1 1-1.6 1-4.5 1-10.2 3-62.8 1-10.5 2,23.6 2,49.3 1,9 1,4.5 1,1.8 3,0.7 2-1.1 1,1 2-0.4 2,0.5 3-0.7 1,0.8 3-0.4 1,0.6 1-1.2 2,0.8 2-0.6 1,0.8 1-0.8 1,0.5 2-0.3 1,0.7 1-0.9 1,0.5 1-0.4 5-0.1 2,0.8 3-0.6 1,0.4 1-0.9 2,0.6 1-0.4 1,1.1 1-1.2 1,1 3-1.6 3-5.9 1-0.7 2,4.3 1,0.5 1,2.7 1-0.7 1,1 1-0.9 1,0.1 1,1 1-1.1 1,0.6 1-0.2 1-1.1 1,1.8 1-0.9 1-0.2 1,1.1 1-1.2 1,1.1 1-1.7 1,0.3 1,1.2 1-0.7 2,0.1 1,0.6 2-1.1 3,0.4 1-0.5 1,0.7 1-0.5 1,1.2 3-0.8 1,0.5 2-0.3 1,1 1-0.4 2,0.9 2,0 3,1.1 3,0.4 9,0.1 5,0.5 1-0.4 23,0.2" stroke="#9467bd"/><path d="M291,569.4l2-8.4 1-1 3,10.4 1,2.1 1,0.7 4,0.6 7-0.3 1,0.5 3-0.5 1,0.4 2-0.5 8,0.2 1-0.4 4,0.2 1,0.4 1-0.3 2,0.5 1-0.5 1,0.5 1-0.4 6,0.4 2-4.1 2-10.8 1-0.2 3,13.7 1,1 2,0.7 1-0.7 1-2.1 1-6 1-18.9 4-133.5 1,4.3 1-1.8 1-13.6 1,7.5 2-11 1,9 1-27.8 1,28.3 1,6.8 1-1.3 1,20.8 1,4.2 1,15.1 1-11.3 2,18.6 1,2.7 1-5.7 1,1.8 1,21.6 1-3.8 1,3.7 1,12.3 1-1.3 2,10.1 1-2.5 2,2.8 1-1.8 1,11 1-6.1 1,7.8 1-0.6 1,2.8 1,1 1,7.2 1-0.2 1,0.5 1-0.4 1,4.1 1-2.4 1,8.2 1-5.9 2,11.2 1-5.3 1,2.5 1,0.4 1-1.6 1,0 3-8.5 1,2.5 1-0.3 2-10.2 1,0.2 1-4.9 1,0.7 1-0.7 1-6.9 1,6.4 1-0.4 3,5.3 2,14.3 4,15.6 3,4.4 1,2.3 1,0.9 1-0.2 1,2.5 1-1.9 2,2.9 1-2.4 1,2.1 1,0.8 1-0.7 1,0.6 1-0.5 1,1.1 1-1.3 2,3 1-2.7 1-0.5 1,3.4 2-0.4 1,0.6 1-0.6 1,1.2 1-1.7 1,3.1 1-1.7 1,0.3 2,2 1-3 1,0.8 1,0.1 1,1.4 5-0.3 1,1.2 1-1 1,0.4 1-0.6 1,0.1 2,1.4 1-0.7 1,1.1 1-1.5 2-0.3 1,2.3 1-2.4 1,1.7 1-1.4 2,1.4 1-0.5 1,0.2 2,2.5 1-2.5 1,0.5 1-0.7 1,0.1 1,0.8 1,0 1-1.1 1,0.2 1-3.3 1-1.6 1-3.9 1-6.8 5-56 1-0.8 1-12.3 1-1.8 7,69.8 2,11.2 2,6.2 2,1.2 1-0.4 1,1.1 2,0.7 1-0.7 3,0 1-1.5 1,1.5 2-0.9 1,1.1 3-1.6 1,0.2 2,1.4 1-2.3 2,1.3 1-0.1 1-1.3 1,3.5 1-2 1,0.9 1-2.1 2,2.3 1-2.1 1,1.5 1-1.5 1-5.6 2-21.5 2-48.2 2-23.4 1,3.8 1,13.5 3,62.4 2,17.2 1,2.1 1-0.4 1,1.8 2-0.7 1,0.8 1-0.4 1,1.4 2-1.9 2-5.7 3-27.5 1-0.8 2,21.2 1,6.4 1,2.3 1-2.2 1-7.4 2-25 1-4.1 1,6.7 2,24.5 1,4.3 1-4 1-15.9 4-118.2 2,31.8 2,73.3 1,21.7 1,12.5 1,5.5 1,1 1-1 1-2.7 1-1.3 1-0.1 1-1.4 1,2.6 1-0.8 3,4.1 3,1.5 1-1.5 1,1.5 1-2.4 1,2.5 1-2.3 1,3.2 2-1.6 2-0.7 2,0.5 1,1 3-1.4 1-1.1 1-0.3 1-1.5 2-8.9 1-6.8 1-2.9 1,0.2 2,12 3,10 1-0.6 1,1.2 1-1.3 2,2.2 1-1.2 2-0.7 1,1.4 1-2.1 2,0.1 2,2.3 1-1.2 1,1.8 1-2.6 1,1 1,0 1-1.8 1,0.2 3-5.6 3,5.4 1-1.5 1,3.5 1-0.8 2-0.6 1,1.2 1-1.5 1,3.2 1-1.6 1-0.5 2,0 1,0.5 1-0.7 1,0 1,0.9 1-1.9 1,0.2 1,1.4 1-0.6 1,0.7 2-2.4 1,0.2 1-1.3 1,0.2 2,2.6 2,0.5 1-0.2 6-9.7 2-1.3 1,1.9 1-2.1 1,3.4 2-0.1 4,7.4 1-1.2 1,0.6 1,1.6 2,0.6 1-2.1 1,0.8 2-0.3 1-0.8 2-8.8 1-2.7 1-0.8 3,12.5 1-0.3 1,1.5 1-0.7 1,0.9 1-0.3 1,2.1 1-2.3 1,1.2 1-1 2,0.3 2-0.6 4-18.9 1,2.9 2,13.3 2,2.9 1,0.8 1-0.1 1,0.5 1-0.7 2-0.1 1,1.4 1-2.1 1,0.9 2,0.7 1-0.7 1,0.8 1-1.9 1,1.6 3,0 1-2 1,1.6 2-1.9 2,2.8 1-0.7 1,0.2 2-0.5 1,0.3 1,1.9 1-1.9 1,0.3 1-0.8 1,1.2 2-0.5 1,1.3 1-0.8 2,0.4 6-11.7 2-0.3 1,1.3 2,5.2 2,2.3 1,2.9 1,0.3 1-1.8 2,1.3 1,0 1-1 1,1 2-0.5 1,0.6 3,0.5 3-3.9 3-16.8 2-0.7 2,10.8 3,10.9 2-1.6 2,2.1 1-2 1,2.1 1-2.2 2,1.7 1-1.7 1-0.3 1,2.1 1-2.5 1,1.6 1-1.6 1,1.5 1-0.3 1-1.7 3-11.2 1-1.1 3,11.4 1,1.6 1,0.1 1,2.5 1-1.2 1-0.2 2,1.5 1-1.5 1,0.6 1-1.2 1,0.7 1-2.5 1,1.7 1-1.9 1,1.5 1-0.4 2,0 2-4.9 1-0.5 1,1.8 1-0.3 2,4.6 1-0.5 1,1.2 1-0.5 1,2.6 1-1.9 1,0.3 1,1.8 1-1.5 3,0.1 1-0.8 1,1.4 2-1.6 1,0.7 1-1.5 1,1.5 1-0.3 1,0.5 1-0.7 1,1.6 1-1.9 2-0.2 1,1.4 1-1 2,0.7 2-0.1 1,1.1 1-1 2,1.3 2-0.6 2-2 1-2.9 1-6.9 2-26.5 1-7 1,4.5 3,31.7 1,4.2 4,4 1-0.6 1,0.2 1,1.7 1,0.2 1-1.4 1-0.3 2-9.1 3-37 1-5.3 1-1.6 1,6.4 2,31.6 1,8.3 2,6.4 2,2.4 2-2.1 2,1.2 1-1.2 1,1.8 1-1.4 1,0.9 1-0.3 1-1.9 2-0.9 1-1.3 2-1.2 2,0.8 1-0.2 1,2.4 2,2 1-0.6 2,1.5 1-1.1 2,0.6 1-0.6 2,1 3-0.9 1,1.2 2-1 1,0.4 1-0.2 1-1.6 1-0.3 1,1 1-0.1 1,0.6 1-0.6 1,1.7 1-1.3 4,0.4 2,1.3 2-1.4 1,0.9 1-3.2 3-4.6 1,2.3 1-1.2 1-3.8 2-30 3-73 1-10.2 1-2.8 3,75.2 2,29.4 2,8.9 2,4.8 1,4.1 1,2.1 2,1.3 2-3.1 3-14.1 1-2.2 2,1.6 3,13.3 1,2.8 2,2.7 2-1 1,0.1 1,0.8 2-0.7 2,1 1-0.7 1,0.9 1-1.7 2,1.4 2-1.1 1,0.7 1-1.7 1,0.8 1-0.7 1,0.1 1-2 1-0.3 4,2.5 1,1.6 2-1.9 1,0.5 1-2 1,0.6 2,0.1 2,1.5 1-0.3 2,0.8 1-0.2 1,0.9 3-0.5 1,0.4 1-1.5 1,0.2 1,1.6 2-0.6 1-1.6 2-0.6 6-10 1,0.8 1,2.4 1,0 2,5.4 3,2 1,1.3 1-0.9 2,1.4 1-1.4 1,0 1,0.9 3-6.9 1-6.5 5-56.6 1-2.4 5,56.8 2,11.8 1,2.5 2-0.3 1,1.5 1,0.4 2,0 2-1.8 1,1.8 1-1 3,1.6 1-1.3 1,0.3 3-3.4 4-11.1 1-0.7 1,0 1,4.2 1,0.6 2,7 1,1.7 1,0.6 1-0.1 2,1.6 1-1.4 2,1.3 4-1.5 2,2.3 1-2.2 1,0.2 1,1.2 3-1.2 3,0.7 2-0.5 3-3.8 1-3.4 1-6.7 2-23.8 2-34.6 2-13.8 1,6.4 1,15 1,3.7 1,20.4 2,21.9 1,6 1,1.8 1-4.7 1-9.4 4-56.8 1,3.6 1,13.4 1,5.2 3,40.4 1,8.5 2,10.1 1-2 1,0.8 2-6.1 2-3.8 1-1.4 1-0.5 3,9.5 1,1.7 2-1 1-1.4 1-4 3-16.9 5-76.4 1-3.5 1-9 1-3.3 3,27.8 3,47.1 2,18.9 2,5.6 1-1.8 2-10.7 1-9.9 2-10.8 1-9.3 1-0.5 1,4.8 1,1.3 6,44.2 1,4 2,3.5 2,1.7 2-0.1 1-5.5 1,0.3 1-4.3 3-30.6 2-10.7 2,13.1 2,19.7 2,13.6 1,2.6 1,1.3 1-0.1 1,1.5 1-0.9 1,1.4 3-1.4 1,0.8 1-1 1,2 1-2.1 1,0.9 2-0.9 1,0.9 2-3.6 3-12.5 1-0.4 2,6.5 1,1 1,5.3 1,2.3 2,1.3 2,0.1 1-1 1,1.2 2-0.3 1-1.3 1,1.5 3-1 1,1.5 1-0.9 1,0.5 1-0.5 2,1 2-1.7 1-0.3 1,0.2 1,1.3 1-1.2 1,1.7 1-1.1 1-0.2 1,0 1,1.1 1-1.7 1,2 2-1.9 1,0.4 1-1.5 1,0 1,1.1 1,0.3 1-1.3 1,0.4 2-2.3 1-2.4 1,1.3 3-4.7 1,1.2 1-1.9 2,2.4 1,2.4 1,0.4 2,4.1 1-1.1 2,2.5 1-0.7 3-5.6 2-4.9 1,1.7 3-5.4 1-0.1 1,0.3 1-0.3 2,8.5 1,0.8 1,1.9 1-2 1-0.2 1-2.1 2-5.6 2-9.5 1-0.8 2,0.8 3,6.5 3-11.6 1-7.4 1,2.7 3,22.4 1,2.6 2-6.8 2-1.6 1,2.5 3,12.4 1-1.1 2,1.5 1-1.3 2,1.7 2-0.6 2,1.4 1-0.4 1-1.6 1,1.1 1-0.2 1,0.6 1-1.9 1,1.6 1,0.4 1-1.5 2,1 3-1 1,1.5 1-1.2 1,1.7 1-0.9 3,0.4 2-1.1 1,1.2 1-1.2 1,0.5 2-2.6 1,3.3 1-1.5 1-0.2 1,1.1 1-1.8 1,1.3 2-0.5 2,1.5 1-0.2 1,2.1 1-4.5 1,2 1,0.7 2-0.9 1,0.9 2-2.8 1,0.5 2-4.9 2-1.5 1,3.1 1-0.7 2,3.7 3,2.3 1-0.4 2-3.9 2-8.4 3-25.3 2,4.4 2,17.6 2,10.7 1,1.1 1,2.3 2,1.7 1-1.8 1,0.9 1-0.1 1,0.5 3-1.1 2,0.8 1-2.2 1,3.5 1-0.5 1-2.8 2,3.8 2-4.6 2,3.9 3-2 1,1.8 1,0 1-1.9 1,2 3-1.9 2,2.8 1-3.4 1,1.5 1-1.2 1,2.5 1,0 2-1.3 1,0.5 1-1.6 1-0.2 1,1.9 2-1.2 1,1.4 1,0 1-1.8 1,1.5 1,0 1-2.6 1,2.8 1-1.1 1,0.4 1-2 1,0.9 1-1 2,3.3 1-1.5 2,0.7 4-0.1 1,0.6 3-1 1,0.5 1-0.5 1,0.2 1,1.4 1-2.9 1,2.5 1-1.6 2,0.6 1,1.3 2-1.6 3,1.6 3-0.9 1,0.6 1-1 3,0.5 1,1.1 3,0.8 2,2 1-1 1,0.1 1,1.3 1-0.9 1,1.1 2,0 2,1.6 4,0.3 1-0.5 1,0.5 2-0.5 2,0.4 10,0.3 5,0 1-0.3 2,0.4 3-0.3 2,0.4 6,0.2" stroke="#8c564b"/><path d="M291,573.4l1-2.3 2-8 1,1.1 3,9.3 2,1.1 42-0.1 1-2 1-6.9 2-29.6 1-1.2 2,29.3 1,7.8 1,2.5 1,0.3 4,0.1 1-1.1 1-4.4 1-12.3 1-29.5 1-50.3 2-179.8 1,6.8 1-58.3 1-0.7 1-2.4 1-15.3 1,8.4 1,29.4 1-20.7 1,19.4 1,0.9 2,71 1-2.9 1-11.8 1,44.6 1-25.6 1,42.6 1-15 2,35 1-8.7 2,43.4 2-7.4 1,9.8 1,0.5 1,20 1-6.1 1,13.8 1,1.7 2-2.8 1,14.6 1,1 2,15.2 1-8.6 1,6.6 1,13.9 1-12.8 1,16.2 2-2.1 1,8.7 1-1.7 1-4.5 1,6.5 1,1.8 2-1.5 1-4.3 1,3.4 1-6.3 2-4.6 3-9.5 2,7.1 2,4.7 2,0.4 1,5.2 1-1.5 1,2.9 1,0.6 1,9.9 1-0.3 1,7 2,8.5 1,3.2 1,0.9 1,3.3 2,0.3 2,4.5 1-2.1 1,2.7 1,0 1,2.6 1-0.6 2-0.2 1,3.1 1-0.6 1-1.8 1,0.2 1,3 1-0.8 1-2.2 1,0.9 1,2.9 2-1.4 1,0 1,2.1 1,0.4 2-1.9 2,2.1 1-1 1,1.2 1-1.2 1,2.6 1-1.8 1,0.8 1-1.7 1,3 1-2.4 1,2.1 1-1 1,1.1 1-0.4 1,1 2-0.7 1,0.9 1-1.5 1,2.1 2-1.5 2,1.7 1-0.7 1,0.6 1-0.8 2,1.4 2-0.7 1,0.5 1-0.7 2,1.3 2-0.6 1,0.5 1-0.4 1,0.3 1-1.1 1,0.4 3-4.9 1-3.2 3-17.5 1-8.7 2-9.5 1,1.7 1,0.4 1,3 1,4.1 4,26.3 2,6.8 2,2.7 3,1.4 1-0.9 1,1 1-0.6 1,0.2 1,0.9 3-1.2 1,0.6 2,0 1,0.8 1-1.1 1,0.7 3-0.6 1,0.9 2,0.6 2-0.9 1,0.5 1-0.3 5,1 1-1 2,0.4 2-1.6 1,0.1 5-13.4 1-0.4 2,3.3 2,7.6 1,2.8 1,1.4 1-0.5 2,1.3 6-0.2 2-2.6 1-4.4 2-18.3 1-5.6 1-1.9 3,26.7 1,3.8 1,0 1-2.9 2-12 1-1.2 3,14.9 1,2.5 1,0.4 1-2 1-5.9 3-46.2 1-2 1,5.9 2,34.1 1,8.5 1,3.8 2-0.5 2-1.6 3,4.8 2,2.2 1,0 1-1 3-16.7 1,2.3 2,13.3 1,2.2 1,0.7 6-0.3 1,0.6 1-0.7 2,0.8 3-1.3 2-3.3 4-21.6 1,1.2 4,21 1,2.2 3,2 1-0.5 4,0.5 2-0.4 1,0.4 5-0.1 2-1.2 4-4.9 1-0.1 1,0.6 3,4.4 2,1.1 5,0.4 2-1.1 3-10.2 1-1.7 3,10.7 1,1.7 1,0.6 1-0.7 1,0.2 2-2.3 2-6.4 1-1.7 1,0.5 1,1.7 2,5.8 2,2.5 2,0.4 5-0.4 2,0.5 1-0.4 1,0.5 1-0.5 11,0.1 1-0.7 1-2 3-14.6 1-1.2 3,15.5 2,3.2 5,0.2 2-0.6 5,0.1 1-0.6 1-1.8 3-17.5 1-1.6 1,2.3 3,16.3 2,2.9 6,0.3 1-0.5 1,0.7 4-0.1 3-0.7 1,0.9 2-0.7 3,0.6 2-0.7 1,0.5 2,0 2-0.6 2,0.2 1-0.5 2-2.5 3-1.2 3,3.7 2,0.3 3-1.9 1-2.2 1-0.5 3,3.8 3,0.9 1-0.4 1,0.7 2-0.6 2,0.2 2-1 1-4.5 3-36.2 1,4.8 2,27.1 1,5.3 1-0.2 1-1 1-4.2 1,1 1-0.5 4,8.4 3,1.2 3,0 1-0.7 2,0.6 7-0.1 2-0.4 1-0.3 3-4 1,0.8 1-0.8 1,0.7 2,2.9 1,0.5 2,0.4 1-0.3 1,0.7 1-0.7 1-0.1 7,0.4 2-3.5 1-5.9 3-51.2 1-8.6 1,6.6 2,34.2 1,10.3 1,6.1 2,3.6 2,5 2,2.4 1-0.3 1,1.1 2-0.4 1,0.8 1-1.1 3,0.7 4,0 1-0.8 1,0 2-1.1 1-2 2,0.1 1,1.7 4,2.3 1-0.7 4,0.6 2-1.5 2-3 2-6.8 1,0.1 5,10.7 2-1.4 1,0.5 1-0.6 1,0.3 2,1.5 3-1.5 1-3.2 1-6.9 2-29.8 1-10 1-3.8 1,5.1 2,31.8 1,8.9 1,5.8 2,3.1 3,0.5 2-0.8 1,0.7 3-1.1 1,1.5 2-1.3 1-2 2-8.2 2-16.7 1-3 1-0.8 4,25 2,5.4 1,1.4 1-0.5 2,0.3 1-0.4 1,0 1,0.8 3-0.8 2,0.6 1-0.6 1,0.5 1-0.6 1,0.8 1,0.1 1-1.1 1,1 2-0.9 1,0.6 1-0.6 2,0.9 1-0.7 3,0.2 1,0.7 2-0.8 1-1.2 1,0.8 1-0.9 2-5.2 1-6.9 2-36 2-55.4 1-13.9 1,0.3 4,97 1,12.6 1,5.4 2,3.9 1-0.5 2,0.8 5-0.9 1-1.6 1-3.2 1-7.9 3-44.2 1,3.4 3,46.6 1,5.2 1,1.7 2,1 1-0.5 2,0 2,0.8 1-0.6 1,0.3 1-0.5 5,0.6 1-0.9 2,0.5 2-0.6 4-0.1 1,1.3 1-0.7 3,0.6 2-0.6 4,0.7 1-0.5 4,0.6 2-2 2-3.7 1-3.2 1-0.5 1,1.1 2,4.1 1,1.1 1-0.6 1-1.9 2-8.4 1-9.1 1-4.3 2-14.5 2,2.4 5,33.6 1,3 1,1.4 1,0.5 2,0.9 2-0.4 2,0.3 3-2.4 2-8 3-24.3 1-3.3 1-1.2 2,9.2 2,16.6 2,9.6 1,1 1,0.2 4-2.3 4,4.1 2,0.8 3-1.7 1-1.9 3-11.4 2-13.1 1-2.9 1-6 1-2.3 1,1.7 1,6 2,20.4 2,8 2,1.9 1-0.3 2,1.1 4,1.1 4-0.4 2-1.9 1-0.3 2,0.8 1,1.1 2,1.1 1-0.7 3,0.2 3-2.7 2-8.4 1-7.2 5-55.6 1,1.8 4,48.2 2,11.2 1,0.2 4-23.3 1,1.5 5,28 2,4.3 1,1.1 1-0.1 2-2.1 4-15.7 1-0.4 1,0.6 2,8.7 2,5.8 1,1.5 2-0.8 1-2.7 2-10 2-20.2 4-61.1 2-9.5 1-1.1 1,12.6 1,6.6 1,20.5 3,37.4 2,11.2 1-1.5 2-13.3 1-13.7 4-73.5 1-1.7 1-17.2 1-5.1 3,33.2 3,59 2,28 2,14.4 2,7 2-2.6 1-4.5 3-25.3 2-6.9 4,33.5 2,6.5 2,2.4 2,0.8 1-0.5 2,0.2 2-0.7 1,0.7 1-0.5 1,0.4 1-0.4 4-6.5 2,4.9 2,1.7 3-0.6 1,0.8 1-0.7 3,1 4-0.8 1,0.7 1-0.8 4,0.8 4-0.7 1,0.2 1-0.6 1,0.6 3-0.5 2,0.3 2-0.6 4-5 2,1 1,2.3 2,1.9 2-0.3 2-1.1 2-1.9 2-2.8 1,1.2 2,0.2 1-0.7 4-7.1 1-2.9 1,0.3 1-0.7 1,3 2,2.5 1,3.6 3,4.9 1,0.1 3,1.9 1-0.5 1,0.8 4-0.5 5,0.7 1-1.1 2-0.6 2-2.6 3-9.9 3-14 2-6.6 1-0.2 1,7.3 1,1.5 3,12.1 1,0.1 1,0.8 2,3 1,4.1 2,3.3 1-0.5 1,0.5 1-1.9 2,0.9 1,1.7 2,1.5 4-0.9 1,0.3 1-0.8 1,0.8 1-0.5 1,0.8 2,0.2 4-1 1-0.7 2-4.2 1-1.4 1-0.2 3,4.7 1,0.9 1,2.1 3,0.1 3-0.4 3,0.5 2-0.4 1,0.5 1-0.6 3,0.7 1-1.1 1,0.9 5-0.6 1,0.6 1-0.9 1,0.7 1-0.5 3,0.6 3-1.7 2-3.3 2-5.3 1-0.1 1,0.9 3,7.4 3,1.8 1-0.1 1-1.3 1-3.2 1-5.5 3-46.6 1-7.8 1,1.9 4,53.8 1,5.7 1,2.6 1,1 1-0.7 2,0.7 3-0.4 1,0.8 2-0.9 7,0.1 2,0.7 1-0.8 1,0.8 4-0.6 4,0.5 1-0.4 2,0.3 1-0.4 2,0.5 1-0.7 5,0.8 1-0.6 1,0.9 1-0.7 4,0.2 1-0.3 1,0.4 3,0.2 1-1.3 1-0.1 2-2.5 2,0.1 2,2.2 3,1.6 3,0.3 1-0.5 2,0.2 1-0.4 1,0.7 2-0.6 1,0.8 3-0.9 2,0.8 1-1 3,1.1 2-0.8 2,0.4 3-0.4 4,0.5 2-0.2 8,1.5 6,0.5 38,0.2" stroke="#e377c2"/><path d="M291,573.5l1-1.3 2-5.8 1-0.4 3,7.2 2,1.2 6-0.5 37,0.7 1-0.7 1-3.5 2-22.2 1-2.4 2,20.9 1,5.8 1,1.7 3,0.6 2-0.3 1-1.1 1-4 1-16.8 2-80.1 1-79.8 1-30.8 1-18.3 1-0.4 1-7.5 1-18.1 1,25.2 1-19.7 1,23.2 1-13.4 2,11.6 1,12.6 1,27.7 1-15.2 1,43.9 1-12.1 1,5 1-14.3 1,32.3 1-13.8 1,14.9 1,3.4 1,9.9 1-3.1 1,15.6 1-2.2 1,0.6 1,13.6 1-0.9 1-10.6 1,23.1 1,8.3 1,6.7 1-9.5 2,18 1-3.4 1,16.1 1-7.8 1-1.3 1,10 1-3.9 1,11.6 1,0 1-2.7 1-0.6 1,9.4 1-5.6 2,2.2 1-0.8 1-5.2 2,7.4 1-0.3 1-4.8 1,3.2 1-3.6 3,7.1 1-0.3 1,2.5 1,0.4 2,7.5 1-1.2 2,4.7 2,2.7 1,3 4,4.5 1,2.4 1-1.5 1,4.5 1-0.5 1,1.4 1-0.4 1,2.3 1,0.7 1-3.1 1,4.1 1-2.3 1,1.1 1-0.1 1,2.5 1,0 1,2 1-1.3 3,1.6 1-1 1,0.8 1-0.9 1,1.6 1-0.6 1,1.9 1-0.4 1,0.8 1,0 1,0.9 2-1.8 1,1 1-0.6 1,1.7 2-1.5 1,1.8 1-0.3 1,0.6 3,0.5 1-0.5 2,0.8 1-0.4 2,1.9 1-1.5 3,1.7 1-1.6 4,1.2 1-0.6 1,0.6 2-0.7 1,1.9 2-1.1 1,0.7 3,0.7 2-1.1 2,0.1 2-2.3 3-7.5 3-13.2 2-1.9 3,8 1,5.1 1,2 1,4.4 3,6 2,1.3 3,0.4 3-0.9 1,1.3 1-0.3 4,0.1 1-0.8 1,1 1-0.7 1,0.6 3,0.2 2-0.5 1,1 2-0.9 2,0.6 1-0.5 3,0.5 4-0.5 2-4.1 1-4.6 2-16.2 2-23.6 2-6.3 1,4.1 4,39 2,9.2 2,2.9 7,0.8 1-0.5 1-1.3 1-3.3 2-12.3 1-2.5 1,2.6 1,6 1,2.9 1-3.7 2-32.1 1-24.7 1-13 1-3 2,44.3 2,32.8 1,4 1-1.1 1-4.4 2-23.8 1-4.9 1,3.3 3,27.7 1,4.8 2,2.4 3-0.5 1,0.6 3-0.4 3,0.7 1-0.6 7,0.5 1-0.6 2,0.4 3-0.4 2,0.4 1-0.4 1,0.5 3-0.3 1-0.4 2-2.2 3-6.6 1-0.8 5,8.3 2,1.3 1-0.1 1,0.7 4-1 1,0.1 1-0.6 6,0.9 2-1.5 1-1.6 2-8.8 2-4 1,1.6 4,12.7 1,1.3 2,0.9 2-0.8 1-1.2 3-8.4 1-0.5 4,9.8 2,0.6 4,0.4 3-3.5 2-1.3 1,0.3 1,1.5 4,2.6 2-0.2 1,0.8 2,0.1 2-0.7 2,0.4 1-0.8 5-1.4 3,1.7 1-0.5 2,1.1 3-0.7 1-1.9 3-13 1-2.4 1,0.5 2,10.7 2,5.5 3,1.2 4-0.7 1,1 1-0.5 1,0.5 2-1.8 1-2.6 1-9.4 3-45.6 1,5.4 3,47 1,4.6 1,1.9 2-0.4 1,0.8 1-0.6 3,0.4 4-0.6 3,0.6 1-0.8 2,0.6 1-0.7 2,1 1-0.7 1,0.5 4-0.5 5-1.3 1,0.3 1-0.3 3,1.7 3-1.1 2,1.3 1-0.6 3,0.4 1-0.7 1,1.1 1-0.7 4,0.4 1-1 1-0.1 1,0.9 2-0.5 1,0.4 1-0.3 1,0.5 1-0.7 2,0.4 2-0.7 2-3.3 1-5.3 3-38.9 1-8.2 1,3.2 1,7.9 2,28.3 1,8.5 1,5 1,2 1,0.9 1,0 2,1.1 3-0.8 3,0.3 2-0.8 2,0.3 1-0.9 1-1.6 1-3.9 3-14.2 1-1.1 3,15.8 1,3.3 2,2.5 1,0 2-1.7 1-1.6 1-0.2 2,2.9 1,0.7 4-0.4 2-1 4-19.8 1,1.1 2,13.1 2,6.4 1,0.9 1,0.4 1-0.6 5,0.2 1-0.9 1,0.3 1,1.1 1-1.4 2,1.1 5-0.9 4,0.9 4-0.7 3,0.5 1-0.8 3,0.4 4-5.9 2-5.3 3-14.9 1,1.5 1,3.9 2,15.5 1,3.8 2,1.5 1-0.3 2,0.3 2-0.8 1,1.1 1,0 2-1.6 1-1.4 3-12.4 1,0.1 1,2.1 2,9.6 2,3.1 2,0.1 1-1 4,1 2-0.8 2,0.9 1-0.9 2-0.2 2-1.2 1-0.1 1,0.7 2-3.4 1-0.1 3,3.3 1,0.1 1,1.1 2,0.8 2-0.7 1,0.7 1-0.6 3,0.4 3-0.8 1,0.8 3-1.7 3-4.6 3-6.4 1,0.2 3,9.6 2,2.6 1,0.2 1-0.5 3,1 3-0.8 1-0.5 1-2.1 1-4.4 1-12.8 1-19.4 3-100.4 1-17.4 1-6.5 4,126 1,18.7 1,11.5 1,4.5 1,1.8 1,0.7 2-0.9 2,0.3 1-1.4 2,1 2-0.2 1,0.8 1,0.2 1-0.9 3,1.6 4,0.7 3-0.9 1,1.2 1-0.8 1,0.8 1-0.8 2-0.6 1,1.2 1-0.8 3-0.1 3-4.8 2-6.1 1-0.5 2,4.5 1,1.1 3-9.4 1,0.3 2,12.1 1,2.3 1,0.6 2,0 1,0.7 1-0.9 1,1 1-0.7 3,0.7 6-0.6 1,0.4 1-1.4 2,0.8 1-1.1 2-9.9 3-32 1-6.2 1-1.1 1-2.5 1,5.9 3,32.7 2,10.6 1,2.2 2,2.5 3-0.4 1,0.3 2-0.8 1,0 2-3.1 2-11.7 3-50.5 1-12.9 1-6.9 1,1.6 1,11.3 2,38.3 2,24.8 1,5.1 1,2.5 1,1.2 3,1.2 1-0.7 1,0.7 1-1 5,0.8 1-0.6 1,0.4 2-0.1 2-1.7 3-6.4 1-0.8 2,1 3,5.3 2,1.2 1-0.6 3-6.5 4,7.9 1,0.7 3,0.7 3-0.7 1,0.5 1-0.4 1,0.6 1-1.1 4,1 2-0.5 1-0.7 3-12.6 3-6.2 2-7.8 1-0.5 1,2.5 4,20.1 1,2 1,0.8 2-2.5 5-23.4 2,5.9 3,17.1 1,2.7 2,2.6 1,0.1 2-1.4 2-5.3 2-3.4 1-0.1 3,6.8 1,1.1 2,0.4 2-1 1-0.8 2-3.8 2-9 2-11.6 3-27.9 2-11.4 2,10.9 4,34.7 1,3.5 1,1.5 1-1.8 2-10.5 2-22.3 3-23.9 1,2.7 1,0.8 2,18.3 1,14.5 4,30.1 2,6 1,2 1,0.3 1-0.3 1-1.4 1-4 1-5.2 2-20.8 2-7.2 1,2.9 2,19.3 2,13.3 1,2.7 3,2.3 3-0.6 6,0.1 1,0.7 5-0.8 15,0.3 2-0.2 1-0.7 1,1.1 5-3.1 3,1.9 2,0.4 1-0.5 3,1.1 8-0.3 2-2.4 4-11.6 3,9.3 1,1.3 1-0.7 1-1.7 1-3 3-16.6 1-10.2 3-20.4 1,0.7 1-4 1,1.5 6,45.4 3,9.7 2,2.1 1-0.1 1,1 1-0.2 1,0.5 2-0.7 2,0.7 6-0.6 1-0.1 2-1.3 1-0.9 4-9.2 2-2.7 3,5.7 1-0.6 1-3.5 2-12 1-0.9 2,15.6 1,3.5 1,0.8 1-2.7 2-15.1 1-4.3 4,23.1 1,3.3 2,1.3 1-0.2 1,0.8 3-0.9 1-0.9 3-8.8 1,1.2 1,4.1 2,4.6 1-0.3 3,0.7 4-0.7 3,0.7 3-0.5 2,0.6 1-0.6 1,0.2 2-0.7 1,0.9 2-0.8 2,0.6 2-0.3 1,0.7 1-0.6 1,0.6 1-0.7 2-0.3 7,0.1 3-0.7 1,0.3 2-1 3-0.3 1,1 1-0.2 1,0.5 1-0.5 1,1.4 1-1.2 2,0.6 1-0.9 2-6 1-7.7 3-37.3 1-0.4 1,3.5 2,29.7 1,7.9 1,6.3 1,2.9 2,2.3 2-0.2 1-1.1 2,1.2 1-1 1,1 1-0.3 1,0.3 1-0.6 1,0.4 3-0.4 4,0.7 1-0.8 1-0.1 5,0.4 1-0.3 3,0.7 4-0.7 1,0.7 2-1.2 2,0.8 2-0.4 1,0.5 2-1 3,1 2-0.9 1,1 2-0.4 1-1.2 2-8.7 2-15.7 1,0.7 3,20.1 1,3 1,1.3 1,0.5 2-0.8 1,0.7 2,0 1-0.6 1,0.8 2-0.4 1,0.5 3-0.3 1-0.5 5,0.2 2,0.6 2-0.7 1,0.6 1-0.8 1-0.1 1,0.6 3-0.6 1,1 2,0.1 1,0.7 3,0.4 1-0.4 3,0.9 1-0.2 4,0.9 16-0.4 2,0.5 3-0.4 4,0.4 12,0" stroke="#7f7f7f"/><path d="M291,574.2l1-0.9 2-5 1-1.2 1,1.3 2,5.1 2,1 38,0.3 4-0.1 1-0.6 1-3.1 3-29.2 1,6.4 2,23.4 1,2.7 1,0.5 4,0.1 2-0.8 1-3.9 1-11.2 1-27.7 2-100.1 1-24.7 1-48.3 2,57.1 1-23.6 1-5.4 1-23.5 2,37.4 1-8.3 1,27 1,1.3 1,0.5 1-10.1 2,47.1 1,2.7 1-2.1 1,2.7 1-1.7 1,9.5 2,6.2 1,6.6 2,20.4 1-2.6 1,6.6 2-8 1,9.1 1,4.4 1-0.3 2,5.1 1,12.2 1-11.3 1,6.1 3,9.8 1-3.6 1,5.9 2-4.6 1,7.3 1,2.1 2-3.3 1,4 1-6.5 2,8.4 1-9 1-4.4 1,3.3 2-8.6 1,3.9 1-5.9 1-0.4 1-1.6 1,0.4 1-0.7 2-3.4 1,1.6 1-1.7 1,6.3 1,2.1 2,17.5 2,4.8 2,7.3 1,0 1,4.9 1-0.5 1,1.3 1-0.6 1,1.5 1,0.4 1,1.9 4,1 1,0.8 3,0.2 1,1.3 1-0.9 1,0.8 2,0 1,0.5 1-0.6 2,1.9 1-0.8 1,0.3 1-0.6 1,0.7 1-1.3 1,1.6 1-0.6 1,0.9 3,0.3 2-0.6 1,1 1-0.6 2,0.7 3-0.5 1,0.6 1-0.5 1,1.2 2-0.5 2,0.6 1-0.5 1,0.5 1-0.4 3,0.6 1-0.8 1,0.9 1-0.5 1,0.7 4-0.1 2,0.6 1-1 1,0.4 2-1.2 1-1.2 2-5.7 3-18.7 2-17.8 2-12.1 1-0.3 1,3.3 1,1.6 1,11.6 4,23.9 1,2.6 1,1 1-0.5 4,7 1,3.5 2,2.9 2,1.6 1-0.1 1,0.5 1-0.7 1,0.6 3,0 1,0.7 2-0.8 1,0.5 1-0.6 2,0.7 3-1 1,0.3 4-7.5 2-1.4 3,6.3 1,0.4 1-0.4 1-2.2 4-16.3 1-0.3 2,6.2 2,9.1 2,4.7 2,2 1-0.2 1,0.7 1-0.5 3,0.2 2-2 1-2.6 3-18.2 1-1.5 1,2.2 3,17.9 1,0.6 1-1.4 2-6.6 1-1 1,0.4 2,7.4 1,2.5 1,0.6 1-2.4 1-9.7 1-21.1 3-116.7 1-3.3 3,118.2 1,20.9 1,11.1 1,4 2,1.2 8,0.3 1-0.5 3,0.4 5-0.4 2-1.4 2-3.6 1-0.3 2,1.7 1,2.2 1,1 1,0.5 2,0 2-1.4 2-4.6 3-4.3 1-0.7 1-3.4 2-1.8 1,0.8 2,8.9 2,5.6 2,1.3 11-0.1 1-1 2-5.1 3-15.9 1,0 1,1.3 2,10.6 2,5 2,0.1 2-0.6 1,0.6 3,4 2,0.6 5,0.1 2,0.5 2-0.5 1-1.8 3-13.5 1,0.6 1,2.7 2,10.2 2,2.3 1-0.2 1,0.6 2-0.3 6-0.1 1,0.4 4-0.6 6,0.6 2-0.2 2-1 1-2.2 3-15.7 1-2.9 1,1.8 3,16.3 1,2.6 2,1.2 8,0.1 3-1.1 3-2 4,2.5 2,0.4 2-0.6 3-2.3 2,0.1 2,1 1,1.3 3,0.5 3-0.3 1,0.5 2-0.5 3,0.5 5-0.4 1,0.4 4-0.3 2,0.3 1-0.7 3,0.7 2-0.3 1,0.3 12-0.5 5,0.5 2-0.4 5-3.1 3,1 1,0.9 1-0.1 1-0.4 3-3.6 3,2 1-0.2 4,0.9 4,2.1 2,0.5 4,0.1 2-0.5 1-1.3 1-3 2-14.5 2-20.9 1-2.5 1,3.9 3,29.9 1,5.3 1,2.6 1,0.6 2,0.4 2-0.5 1,0.5 4-0.5 3,0.2 4-1.7 1-1.2 1,0 2,0.9 2,1.8 3-0.1 4,0.6 3-0.6 3-2 3-0.8 2,1.9 3,1.3 1,0 4-2.2 3,0.4 2,1.2 3,0.6 4-0.2 6-1.6 2,1.1 5,0.6 1-0.3 1,0.4 3-0.3 2-1.7 1-2.8 1-6.6 3-36.3 1-5.6 1,1.3 4,44.1 2,6.9 3,1.2 1-0.4 3,0.2 6-0.7 2-0.5 1-1.6 2-1.6 1-0.2 3,3.3 3,1 3-0.5 1,0.5 1-0.4 4,0.4 1-0.4 1,0.6 3-1.1 1,0.5 1-1.3 2-1 6,2.3 1-0.3 2,0.5 8,0.2 1-1 2-0.7 2-7.9 4-45.8 1-6.5 2,12.7 3,35.4 2,11 1,1.7 1,0.4 2,0.6 2-0.7 1,0.4 5-1.8 7,2 2-0.5 1,0.8 1-0.5 1,0.8 1-0.9 1,0.2 1-0.6 4,1 1-1 1,0 1,0.7 1-0.4 2-0.9 2-3.9 3-13.8 1-0.7 1,1.3 2,10.2 1,2.7 1,0.5 1-3.5 2-4.3 1,0.5 3,10 2,2.4 1-1 2,0.4 3-0.1 1,0.7 2-1 2,1 2-0.7 2-2.4 2-6.8 5-49.1 1-2.3 2,12.8 2,22.7 2,15.8 2,7.4 2,2.3 3,0.4 1-0.5 1,0.4 2-1.3 1-2.4 1-3.7 1-7 3-27.3 1,1.1 1,2.4 1,4.8 2,16.9 2,11.7 1,1.9 2,2.2 4,0.5 2-0.4 4,0.6 3-0.6 2-1.8 2-6.7 3-21 1-4.7 1-1.7 3,14.8 1,8.8 1,4.5 1,3.8 1,2.3 1,1.2 1,0.7 4,0.6 1-0.5 1,0.7 4-0.9 1,0.9 2-1 1,0.6 4-0.3 3,0.5 1-0.6 2,0.2 3-1.5 1-1.7 4-17 1-1.3 1-0.1 4,12.4 1-1.2 1-4.7 1-9.5 4-51.2 1-6.2 1,4 2,20.4 1,19.2 2,24 2,11 2,1.9 1-1.2 1-3.4 3-16.3 1-2.3 1-0.1 1,2.5 3,16.6 1,3.3 1,1.1 1-0.2 2-2.7 2-10.1 3-28.6 3-45.6 2-11.5 2,9.3 4,53.8 1,9.5 2,11.4 1,1.5 1-1.8 1-8 2-26 2-39.6 1-5.5 1,1.3 1,8.2 1,3.6 3,38.2 3,28 2,10.7 1,2.4 2,2.1 2,0.1 4-4.8 1,0 1,0.3 1,2.1 2,2.3 2,0.9 2-2.5 1-2.5 1-0.7 2,3.2 1,0.2 2-1.3 1-0.1 3,1.7 2,0.1 4,2.4 3,0.4 3-0.7 2,0.1 2-1 2-2 1-0.4 1,0.1 4,3.1 3,0.8 1-0.5 4,0.2 1,0.4 1-0.4 4,0.2 2-0.6 2-1.4 3,1.6 3,0.5 3-0.9 3-5.5 3-9.6 1-1.1 1-0.1 2-1.4 1-2.4 2-7.6 2-13 1-0.5 1-3.7 1,1.1 7,36.4 2,5.2 2,2.4 3,0.6 4-0.3 8,0.6 2-1.1 2-2.2 1-2 5-13.2 1,0.9 2,8.6 1,0.2 1-2 2-9.3 1,0.6 3,13.5 1,0.8 1-1.8 2-7.5 2,1.4 3,9.9 1,1.7 2,1.6 3-0.4 17,0.3 5-0.5 6,0.5 10-0.5 1,0.4 4-0.1 2-0.4 2,0.4 1-0.5 1,0.7 3-2 3-4.9 1-0.8 1-0.2 1,0.5 2,4 3,2.9 2-0.7 1-1.1 1-3.6 1-9.3 3-55.9 1-11.2 1,4.6 3,59.7 1,10.7 1,4.9 1,1.5 3,0.6 5,0.1 1-0.4 1,0.3 4-0.4 4,0.3 2-0.3 1,0.4 1-0.5 3,0.1 1,0.5 1-0.6 3,0.7 1-0.6 2,0.3 1-0.5 3,0.2 1-0.7 2,0.9 2-0.5 1,0.5 4-0.2 1,0.3 1-0.5 4-0.1 1-0.8 1-4.1 3-26.5 1-0.4 3,25.7 1,3.9 1,2 3,0.2 1,0.6 1-0.6 1,0.5 2-0.4 4,0.2 1-0.8 1,0.8 3-0.3 2,0.8 3-0.8 3,0.4 2-0.4 3,0.5 4-0.3 13,1.6 38,0" stroke="#bcbd22"/><path d="M291,572.8l1-0.4 1-1.7 2-4.7 1-0.2 1,1.4 2,5 2,1 1-0.3 1,0.6 8-0.5 1,0.5 2,0.1 1-0.8 1,0.8 1-0.5 1,0.3 3-0.6 2,0.6 2-0.7 2,0.9 2-0.7 1,0.5 3-0.3 1,0.6 1-0.4 4,0.6 1-0.2 1,0.5 2-0.4 2-2.5 3-15.9 1,1.4 2,12.4 1,2.9 2,2.1 2-0.6 1-1.8 1-6.8 1-14.8 1-40.3 3-214.3 1-7.4 1-27.6 1,9.7 1-10.1 1,35.1 1-52.5 1-24.4 1,14.3 2,90.3 1-57.1 1,43.9 1-16.6 2,55.5 1-21.2 1,49.4 1-24.9 1,32.1 1-8.8 1,1.9 1,14.7 1,3.8 1,18 2,17.1 1-16.8 1,14.9 1,29 1-6.8 1,8.9 1-18.7 1,12.6 1-6.6 2,20.3 1-5 2,18.1 1-0.4 1-2.3 1,13.2 1,3.1 1-13.1 1,3.8 1,11 1,2.6 1,7.4 1-6.1 1,6.9 1,1.7 2-6.5 1,9.6 1-10.4 1,3.8 1-3.8 1,0.4 1,1.7 1-3.7 1,7.7 1-7.5 1-3.3 2,13.8 1-1.8 1,8 1-5.5 1,8.6 1,1.5 1,9.3 1-2 1,1 2,4.9 1,1.6 1,0.2 1,5.2 1,2.4 1-0.6 2,5.3 1-0.5 2,2 1-3.7 2,5.4 1-1.1 1-2.6 1,2.5 2,0.9 1-0.1 1-0.7 1,1.5 1-1 1,1.6 1-0.1 1,1.3 1-1.5 2,2.5 1-0.1 1,0.8 1-0.2 1,1.8 1-2 3,3.8 1-2.8 2,2.8 1-0.5 1,0.5 1-2 1,1.3 1,0.2 1,1.5 1-2.2 1,2.3 1-1.1 2,1.3 1-0.5 1,1.2 1-0.9 1,0.7 1-2.9 3,4.8 1,0.4 2-0.8 1,0.8 1-1.3 1,1.7 1,0.5 1,0 1-2.2 1-0.6 2,2.7 1-2.1 1,0.4 1-1.1 1,0.3 3-15.6 4-40.9 2-11.3 1,0.2 3,19.9 2,4.8 1,5.6 3,35.1 1,3.8 1,1.5 1-0.9 1,1 2,0.5 1-0.2 1-1.3 2,2.3 2-1.2 1,1.8 1-1.1 1,0.5 1-0.7 1,2 1-3.4 2,2 1-1.1 1,1.6 1-2.3 1-0.9 1,2.9 1-1.1 1,1.2 1-2 1,2.1 2-1.2 1,1 1-0.5 1-1.6 1,2.3 1,0 2-5.1 2-10 3-43.9 1-4.8 1-2.2 2,11.3 1,8.7 2,29.8 1,8.7 1,4.3 3,2.1 1,1.6 1-1.3 1,0.8 1-1.9 1,1.5 1,0.5 1-1.9 2-6.5 1-10.6 2-10.5 3,15.1 1,1 1,4.7 1-2.4 2-9.5 1-1.5 3,12 1-3.8 1-13.4 3-101.7 2-42.9 3,111.6 2,47.3 1,9.2 2,3.8 1-1.3 2,0.5 1,0.8 1-0.5 1,2.2 1-2.9 2-1 1,2 1-0.6 1-2.2 1,0.5 1-5.2 1-2.2 1,0.5 1-0.8 1,5.8 1,0.4 1,4.4 1-0.4 1-1.3 1,1.3 1,0.4 2-1.6 1,0.6 1,1.6 1-1.4 1,0.3 1-3.1 2-1.9 2-13.8 2-9 5,26.8 1-0.1 1,0.7 1-0.5 1,3.8 1-2.7 1-0.2 2-1.5 2,1.6 1-0.3 1,0.3 1-1.2 1,0.1 1-0.9 2-6.1 1-0.7 1,2.5 2,1.9 1,0.3 1-1.2 1,0.9 1-0.5 1,3.6 1-1.3 1,3 1,0.4 1-1.3 1,0.2 1-1.3 2,1.7 2-1.4 1,2.3 1-1.5 1,1.7 1-2.1 3,1.5 1-0.4 1-1.8 1,0.6 2-3.2 3-20.8 1-1.3 3,20.7 1,0.3 1,5.2 1-1.1 1,0.3 1,2.8 2-1.1 2,0.3 2-2.3 1,2.8 1-0.1 1-2.1 1,1 3,0.7 1-1.7 2,0.2 2,1.5 1-0.2 1-1 1,1 1-0.1 3-2.3 2-7.1 1-0.3 1-1.5 2,9 1-1.3 1,5.7 1-2.3 2,1.4 2-1.1 1-1.5 1,1.4 1-1 1-0.1 1,1.8 1-2.2 1,1.9 1-1.6 1,0 1-1 4,0.4 1,0.7 1,2.3 1-1 1,0.7 1-1.2 3,1.7 1-1 1,1.9 2-2.6 1,0.6 3-1.4 1,2.1 1-0.7 2-0.1 1,0.5 1-0.7 1,0.8 1-1.4 2,0.9 2-1 1,1 1-0.2 1,2.5 1-2 1,0.8 3-0.5 1-1.5 2,2.1 1-2.4 1,0.7 1,0 1,1 1-0.2 1,0.8 1-1.8 1,1.5 1-0.7 3,1.2 2-2.9 1,1.5 1,0.5 2,0.3 2-1.5 1,2 1-0.8 1,0.3 2-0.8 1-0.9 1,3.2 1-2.5 1-0.3 1,1.2 3-3.7 2-13.5 2-20.3 1,0.8 1,4.6 1,13.3 2,13.6 2,5.4 1,0 1,0.8 3-0.3 1,0.4 1-1.5 1,1.5 1-0.6 2,0.1 1-1.4 1,1.6 1,0.2 2-1 1-3 1-1.4 2-10.9 1-2.8 1,1.7 3,14.5 2,2.8 2-0.7 1,1 1-0.4 2,0.1 1,1 1-1.8 2,1.1 2-0.9 1,1.3 3-6.4 2-7.5 1-1.5 1,3 1-0.2 1,6.6 2,4.8 1,0.9 1-1.6 1,1.1 1,0 1,1 1-0.8 1-0.1 1,1 1-0.9 1,0.7 1-0.4 1,1.2 1-1.9 1,1.2 1-0.8 1,0.7 2,0.1 1,0.9 1-1.7 4,1.1 1-0.8 3,0.4 1-1.1 1,1.3 2-1.3 1,1.2 3-3.9 2-0.5 1-2.6 2-9.2 1,0.9 1-0.4 4,15.7 2-1.3 7,1 2-0.6 1-1.2 2-6.6 1-6.7 1-1.1 1-2.2 3,14.4 1,2.5 1,0.5 1,1.8 1-0.1 1-0.7 2,1.2 2-1.1 1,0.2 1-0.6 1,0.4 1,1.1 1-1.7 1,0.9 3,0.2 2-1 3,1.5 2-1.6 1,0.1 2-3.3 3-15.8 1-0.5 1,1.8 3,14.4 2,2.9 2,1.3 1-1 1,0.7 1-1.3 3-7.7 1-0.3 1,0.9 2,5.2 1,0.3 2,2.4 3-0.2 1,1.5 1-1.9 1,0.9 3-4.1 3-15 1-2.1 1,0.3 1-3.7 1,1.7 1-0.3 1-3.3 1-1 1,1.7 4,19.5 2,5.4 2-0.3 1,1.1 1-0.2 1,0.6 1-1.1 1,1.4 1-0.6 1,0.3 1-2.7 1,1.8 1,0.5 2-0.7 1-2.2 1,1.4 1-1 2,0.6 1-0.3 3,2.2 2-1.6 1,1.1 1-0.2 1,1.4 1-2 1,1.4 1-1.3 1,1.5 1,0.3 1-0.8 1,0.3 1-1.1 1,0.9 3-2.8 1-1.9 3-12.6 1,1.6 1-0.2 2,8.1 2,5.8 1,1.1 5,1 1-0.1 1-1 1,1.3 1-1.2 2,1.6 1-2.1 1,1.7 1-0.9 1,0.4 1-0.8 2,1.3 2-2.2 1,1 3-7.7 2-16.3 1-12.8 1-6.4 1-1.6 1-4.3 3,17.9 3,24.5 1,1.7 1,4.1 1-1.3 1,2 1,0.9 2-1.1 1,2.1 1-2.5 1-0.5 1-2 1-3.9 1-1.7 3-12.2 1,0.4 1,1.4 3,10.5 2,5.7 1,1.6 1,0 1-0.9 1,1.8 1-0.4 2,0.5 1-0.7 1,1.1 3-0.9 1-1.1 1,1.4 1-1.7 1,2.4 4-6.3 2-15.6 3-32 1,0.3 1,4.9 3,30.3 2,10.7 2,5.2 1,0.9 1-0.5 1,0.5 1-0.5 1,2.7 2-3 1,1.8 4-1.9 1,1.9 1-0.6 1,0.1 1-1.3 1,0.7 2-2.5 1-0.2 1-1.6 2,1.2 1,2.7 1-1.9 3-11.8 4-56.6 2-12.5 3,33.6 1,18.3 2,17.7 2,6.4 1,0.9 2-1.9 1-1.6 1-3.9 2,2.4 1-1.3 2,6.9 3,4.7 2-1.1 1-1.4 2-6.5 2-13.2 1-3.1 1-0.8 2,4.9 1,9.1 1,4 1,2 1,0 2-4.7 1-3.9 4-46.7 2-41.8 3-45.3 1-1.7 1,5.7 4,80.8 2,29.5 1,6.1 1,0.2 1-2.4 2-23.5 4-74.8 1-6.1 1-0.4 1-18.1 2,24.7 5,92.9 1,11.2 2,12.6 1,3.2 1-1.1 1,4.2 1-3.5 1-0.7 1-5.2 2-4.3 1-1 2,7.9 2,3.7 1,3.4 1-0.7 2,3.3 1,0.7 1-2.3 1-0.5 2-2.7 2,3.5 1,0.5 1,2.4 2-0.1 1,2.9 2-2.4 1,0.4 1-1.1 1,2 1-0.6 1,0.5 1-0.6 2,0.7 2-2.2 1,2.7 1-3.7 1-0.2 1,4.2 1-4.1 1,3.9 1,0.5 1-2.1 1-0.6 1,1.9 1-2.6 1,1 1,0.2 1-1.3 1,0 1-6 1-0.9 1,3.9 3,5.6 1-1.9 1,0.7 1,1.9 1-2.2 1-0.8 1,0 1,1.2 1-0.2 1,0.7 1-1.4 1,0.7 1-1.3 1,0.7 3-2.5 1-5.5 1,1.4 1,0 1,2.1 1,0.4 1,3.2 1,0.8 1-0.9 2-9.2 1-1.2 1-6 1,3.4 1,0 1,0.9 1,3.1 2,1.5 1-0.5 1,2.7 1,1.2 1,0.6 1-0.8 1,3.2 1,1.4 2,0.9 1,2 1-0.4 1-2.9 1,2.4 1,1 2-0.5 2,0.5 1-1.8 1-0.2 1,2.7 2-1.8 2,0.3 1-1.2 1,1.4 1,0.5 1-2.2 1-0.1 3-9.6 2-4.1 1-0.9 3,5.3 1,3.3 2-0.2 1-0.8 1,1.5 2,1.2 2,3.4 1-0.1 3-15.4 1-2 1-0.7 3,17.5 3,4.2 1-1.4 2,3.6 1-2 1,0.8 1-0.4 1,0.2 1-1.5 1,0 3,1.4 1-1.6 1,2.4 1,0.1 1-1.1 2-0.8 2,1.2 1-1.1 1-0.1 1,1 2-1.6 1,0.6 1,1.9 1-0.3 1-2.6 2,1.7 2-1.5 1,2.1 1-1.1 2,0.8 1-0.6 1,0.6 1-2.4 2,3.3 2-2.7 1,1.4 1,0.4 1-0.8 1,1.1 1-0.3 1,0.9 1-2 1,0.9 1-0.4 1-1.9 1,0.3 1-5.2 3-6.5 1,1.4 1,4.9 3,6.2 2,0.4 1,1 1-0.1 1-3.1 1-0.3 2-22.3 3-92.5 1-9.6 1,12.3 3,88.8 1,17.2 2,9.7 3-0.2 1,1.6 1-1.2 1,1.4 1-2 1-0.2 1,0.1 1,1.5 1-1.6 1,0.6 1-0.8 1,1.9 1-2.1 3,1.6 1-1.6 2,1.7 1-1.6 1,1.1 4-1.5 1,1 1-0.5 1,0.5 1,1.2 1-1 1,1.6 1-0.1 1-1.8 1,0.2 1,1.5 1-0.9 3-0.1 1,1 1-0.4 1-1.1 4-0.4 1,1.3 1,0.4 1-2.4 1,1.4 2-2 3-0.9 3,3.1 1,0.1 1-0.6 3,1.5 2-0.4 1-0.8 3,0.9 1,1.2 1-2.2 1,1.6 1-0.7 2,0.7 1-1.7 1,1.3 1-1 1,0.5 1-0.5 2,1.4 1-0.6 1,0.6 1-0.6 1,1.8 1-1.9 1,0.5 1-0.6 1,0 1,0.7 3-0.6 2,2.4 1,0.3 1-0.6 1,0.1 3,1.7 3,0.1 3,1 6-0.4 1,0.5 2-0.3 1,0.5 2-0.4 5,0.5 1-0.4 6,0.1 3,0.6 4-0.8 1,0.5 3-0.2 1,0.6 1-0.6 1,0.1" stroke="#17becf"/><path d="M291,572.8l3-13.4 1-0.6 2,10.7 1,3.3 1,1 6,0.4 35-0.1 2-0.1 1-0.9 1-3.9 1-11 2-38.3 1,0.8 2,37.2 1,11.1 1,4.1 2,1 2-1.1 2-7.4 3-37.2 1-1.6 1,5.5 3,32.5 1,5.7 1,2.6 2,1.1 7-0.1 2-0.6 1-0.9 2-5.2 2-8.3 1-2.4 2,2.7 1,4.1 1,1.7 1-4.4 2-30.6 1,7.1 2,32.5 1,3.7 2,0.7 1304-0.2" stroke="#1f77b4"/><path d="M291,573.3l3-15.4 1,0.5 2,10.8 1,3.5 1,1.5 2,0.3 24-0.1 14,0.5 3-0.3 1-0.9 1-3.3 2-18.8 1-4.1 1,5.8 1,12.1 1,6.2 1,2.6 1,0.5 5,0.1 1-0.5 1-2 1-7.6 1-22.7 2-107.5 2-74.5 1,25.2 1-18.8 1-5.6 1,17.2 1-30.8 1-11.9 1,29.9 1,11.4 1-20.2 1,38.5 2,34.6 1-5.3 1,8.3 1-5 1,13.9 1-25.8 1,29.8 2,23.9 2-14 2,13.3 1,22.7 1-18.3 1,11.7 1,5.5 1-7.3 2,27.9 2-14.8 1,5.1 1,12.9 1,5.7 1-3.7 1,10.9 1-8.4 1,7.7 1,2.3 1-1.6 1,2.6 1,0.7 1-1.3 1,3.8 1,1.3 1,3 1-5.2 2,2.3 1-2.2 1,2.1 1-6.4 1,5.1 2-7.8 2,5.5 1-4.6 2,3.3 2,5.5 1-1.1 2,6 1,5.8 1-2 2,9.4 1-0.7 2,5.4 2,1.9 2,1.6 1-1 1,0.6 1-1.4 2,3.9 2-2.3 1,2.1 1-0.1 1,1.5 1-0.7 1,0.5 1-0.3 1,1.1 2-0.7 1,1.5 1-0.3 1,0.4 2-0.6 1,0.9 2,0.1 2-1.1 1,2 1-0.2 1-1.1 2,2.7 1-1.2 1-0.3 1,0.9 2,0 1,0.5 2-0.8 4,1.5 1,0.1 1-0.9 1,1.1 1,0.2 3-0.7 1,0.8 1-0.2 1,0.8 2-0.7 1,0.4 1-0.6 1,1.2 1-0.8 3,0.7 1-0.7 1,1 2-1.2 1,0.4 2-2.9 2-7.7 4-29.6 1-5.5 2-5.9 1,0.8 1,2.7 1,5.4 3,25.1 2,9.8 2,5.8 2,2.8 2,0.9 5,0 1,0.4 3-0.2 1,0.3 1-0.5 3,0.5 1-0.4 1,0.3 1-0.6 1,0.8 5,0.4 4-0.6 1,0.3 2-0.6 1,0.4 1-0.3 1-1.2 1-3.4 2-19.3 4-90.4 1-5.6 1,4.7 1,17.2 2,52.3 2,33.9 1,7.3 1,3.2 1,1.6 2,1.1 1-0.6 2,0.1 2-1.5 1-2.6 1-9.2 3-47.2 1-0.4 2,37.3 1,5.5 1-7.8 2-39.7 1-10 1-0.2 3,54.4 1,11.9 1,6.1 1,1.5 1-0.9 1-4 2-13.4 1-2.7 1,0.5 2,13.9 1,4.1 1,3.3 2,1.5 8,0 5-3.7 3,1.4 1,1.4 2,1 2-0.5 1-1.3 1-4.4 2-17.7 1-0.8 3,21 1,1.6 1,0.5 1,0.3 1-1 3-8.2 1-1.4 1,0.5 3,8.8 1,0.7 1,0.4 1-2 2-1.4 2,1.4 2,3 2,0.8 3-0.2 1,0.6 4-0.5 2-1.3 1-2 3-9.9 1-1.7 1,0.2 3,10.6 1,2.4 1,1 2,1 2,0.2 3-2.1 1,0.1 3,1.9 4,0 2-0.4 1-0.8 1-2.8 1-8.2 3-57.8 1,5.5 2,44.8 1,13 1,5.3 1,1.3 3,0 2-0.8 3-2.9 1,0.4 4,3.3 2,0.3 2-0.3 6,0.2 2-1.5 4-8.3 1,0.1 1,1.5 2,6 2,1.9 3,0.4 4-0.2 3-1.7 1-1.6 3-9.2 1-0.7 3,9.5 1,1.9 1,0.8 1-0.5 3-4.1 2-0.6 1,0.4 1-0.6 2-8.3 2-11.7 1-3 1,2.3 3,20.8 1,4.1 1,1.7 3,0.9 6-0.4 3-4.4 1-0.1 2,3.3 2,1.2 15,0.1 3-0.9 2-1.8 1-1.9 1,0 1,0.7 4,3.6 3-0.2 1-1.1 1-2.6 1-6.2 3-36 2-17.5 4,48.9 2,12.1 1,1.7 1,0.7 3,0.5 2-0.1 1-0.7 1,0.6 3-0.3 2,0.7 2-0.2 3-1.6 3-3.3 3,3.2 2,1.5 8,0.3 1-0.6 3,0.2 2-0.3 2-3.9 3-19 1-0.8 1,2.9 3,16.3 1,2.3 2,2.3 2,0.5 5-0.4 8,0.4 2-0.5 4,0.4 1-0.5 1,0.5 4,0 2-0.6 1,0.6 1-0.6 4,0.2 1-1.3 1-3.6 3-18.4 1,1.1 3,19.7 1,1.7 2,0.8 7-0.3 1-0.3 1-1.5 4-18.9 1-1.7 2,10.2 1,1.7 2-18.6 1-2.1 2,22.8 1,6.5 1,1.8 1,0.6 1-0.6 3,0.5 2-0.4 1,0.5 4-0.7 2-1.4 1-1.5 2,0.4 1-0.8 2-3.4 1-0.8 1,1.1 2,5.4 1,1 2,0.7 3-0.7 2,0.6 2-1.1 1-1.4 2-4.1 2-6 1-0.7 1,0.2 4,11 2,1.6 2,0 1-0.6 3,1 6-4.8 1-2.4 1-7.3 2-41 2-68.4 2-41.3 1,19.3 4,119.6 2,20.8 1,3.6 1,1.5 4,0.1 3-1.3 1-1.7 1-0.1 1-1.5 2,0.8 3,3 3,1 3,0 2-0.7 1,0.7 1-0.7 6,1 3-0.2 2-0.7 1,0.6 2-0.1 2-0.8 2,1.1 1-1 1-0.1 2,0.1 1,0.8 1-0.4 2,0.3 2-0.5 1-1.2 1-1.8 1-4.3 1-1.7 1,0.8 2,6.5 2,2.1 1-0.8 1,0.6 1-0.8 1,1.1 1-0.6 1,0.7 1-0.9 1,0.1 2-1.7 2-5.7 3-22.8 1-5.1 1-0.5 2,8.2 3,18.2 2,6.4 2,2.9 2,0.4 3-0.1 2-1.2 2-5.6 1-9.2 4-51.5 1,1.8 1,5.5 3,40.3 2,15.1 1,3 2,1.6 1,0.2 1-0.8 1,0.6 1-0.3 1,0.7 6,0.1 2-1.1 2-2.6 1-4 3-21.2 2-9.5 1,0.5 1,3.4 3,25 1,4.8 1,2.4 2,1.8 2,0.7 4-0.7 1,0.7 3-0.4 2,0.6 1-0.9 9,0.2 2-2.4 1-2.9 2-15 4-78.3 1-6.2 1,2.7 1,13.7 2,41.9 2,29.4 2,12.9 1,0.5 1-0.2 5-11.6 2,0.6 1-1.5 1-0.3 1-1.6 1,0.1 2,2.9 1,3.9 2,2.4 1-2.3 1-5.5 3-29.2 1-4.4 1,0.4 1-6.3 1,8.4 1,1.5 2,23.9 1,6.9 1,0.9 1-1.8 2-16 4-47.1 1-2 1-11.3 1,0.7 2,8.9 1,17.5 3,31.3 2,14.1 2,8 1,0.1 1-1 1-4.9 2-12.4 1-10.8 2-12.3 1-2.5 1,2.1 1,4.6 4,30.7 2,11.4 1,3.1 2,3.4 1,0.3 3-1.3 3-2.8 2,0.2 2,0.9 1-1.1 2-5.9 1-5.4 2-5.8 1-0.7 1,2.6 3,14.5 1,3.1 1,1.2 1,0.2 1,0.9 3-0.1 2,0.8 2-0.5 1,0.4 4-0.5 1,0.5 4,0.2 2-0.5 2,0.4 1-0.8 1,0.6 3-0.2 5,0.6 2-0.1 1-0.6 2,0.6 3-0.4 2,0.4 3-0.5 1,0.6 1-0.7 2,0.8 3-0.6 1,0.4 3-0.1 4-1.4 2-1.6 3-5.3 1-2.7 1-0.9 1-2.7 1,0.9 1-1.1 1,0.3 2,2.8 2,4.9 5,6.5 1-0.4 1,0.6 2-0.4 1,0.6 3-0.4 3,0.7 1-0.4 3,0.3 4-1.3 2-1.7 2-2.7 1-0.4 3,0.7 2,1.5 1-0.5 2-7.7 1-7.9 2-10 1,0 1,3.9 3,3 1,5 2,1.4 4,13.5 2,3 6,0.4 1-0.4 1,0.6 2-0.4 2,0.6 1-0.7 4-0.1 2,0.7 1-0.5 2-0.1 1,0.5 4-0.7 1,0.6 3,0 1-0.5 1,0.6 1-0.5 3,0.3 1-0.4 2,0.5 2-0.8 1,0.9 4-0.3 2,0.4 1-0.7 3,0.5 1-0.5 1,0.2 1-0.8 2-0.3 1-1.1 4,0.6 2,1.4 1-0.3 2,0.6 2-1.5 1-2.5 1-5.7 4-49.9 1-2.3 1,7.3 3,41.3 1,7.6 1,3.6 2,2 1-0.4 2,0.5 1-0.4 3,0 2,0.5 2-0.4 1,0.4 5-0.4 5,0.5 1-0.6 8,0.6 1-0.6 4,0.4 3-0.4 3,0.1 2,0.6 6-0.5 2-1.7 3-12.6 1-1.6 4,14.2 3,2 1-0.9 1,0.7 4-0.2 1,0.3 4-0.3 3,0.4 4-0.5 4,0.5 7-0.4 2,0.5 4-0.2 1,0.5 12,0.8 36,0" stroke="#ff7f0e"/><path d="M291,571.3l1-1.9 3-14.4 3,15.3 2,1.9 3-0.2 2,0.8 4-0.9 2,0.9 2-0.6 1,0.5 2-0.4 2,0.3 1-0.4 5,0.3 2-0.5 1,0.1 2,1.2 3-1.1 1,0.6 3,0.2 4-0.5 1,0.6 1-0.2 2-1.8 3-17.9 1,3.3 2,13.9 1,2.9 1-0.3 2,0.7 1-0.4 1-0.4 1-1.7 1-11.4 1-29.3 1-52.7 1-115 1-30.2 1-85.3 2,27.5 2-56.4 1,0.2 1,1.3 1,55.1 1,2.3 1,11.9 1,25.6 2,4.7 1,1.3 1,38.2 3,37.7 1-11.1 1,1 2,16.6 1,22 1-8.8 1,8.2 1-4.7 1,18.8 1,5.8 1,18.7 1-1.7 1,10.5 1-12.3 1,16.1 1-4.3 1,10 1-2.2 1,6.2 1,0.6 1,8.7 1-3.8 1,10.1 1,0.7 2,4.6 1,5.5 1-0.9 1,5.9 1-3.5 2,10.5 1-5.4 1,3.9 1-2.6 1,3.3 1-8.7 1-1.7 1,1.4 3-12.6 1-2.5 1,0.2 1,6.5 1,3.4 1-3.4 2,1.3 1,9.5 1-3.7 2,15.5 1-2.2 1,6.4 1,1.3 2,8.1 1,1.1 1,0.3 2,5.7 1,1.2 2,0.6 1,2.2 1-0.3 2,3.1 1-1.9 1,0.1 1,2.7 2-2.1 1,2.6 1-1.2 1,1.7 1-0.6 1,0.8 1,1.8 1-0.7 1,1.2 2-1.6 1,0.3 1-0.8 1,2.3 2-0.8 1,1.2 1,0 1-1.4 1,3.6 1-3 1,2.3 1-1 1,1.1 1-0.1 1-1.3 1,3.4 1-1.9 1,1.3 2-1.2 1,1.6 1-0.2 3,1.1 3-1.7 2,2 2,0.4 1-0.4 2,0.8 3-1.1 1,0.9 3-0.5 2,0.3 2-2 1-0.1 1-2.1 2-10.1 5-42.3 1-5.7 1-1.6 1,2.8 1,1 3,30 1,5.3 1,9.8 2,10.2 1,3.5 1,1.7 1,0.2 1,1.8 1-0.5 1,0.3 1-0.5 2,1.2 1-1 1,0.8 1-1.6 1,0.1 1-4.2 1-2.1 3-14.7 1,1.4 1,0.4 1,3.5 2,2.1 3,12.5 1,2.1 2,1.6 1-1.1 1,1.2 5-0.8 1,1 2-1.5 2-2 1-4 2-4.9 1-0.8 2,0.7 3,8.5 3,3.5 1-0.7 1,0.4 3-2.9 4-10.4 1-4.6 2-26.4 1-5.2 1,0.4 3,39.6 1,1.9 2-9.5 3-38 1,2.9 3,36 1,5.1 1,0.4 1-8.4 1-18.7 2-64.7 2-36 3,88.2 2,34.5 1,0.2 1-1.5 2,2.8 2,10.9 3,3.8 1-0.7 1,0.3 1-0.9 1,0.3 3-5.6 2,1.2 2,3.8 1,0.8 1,0.1 1,1 1-1 1,0.5 1-1.4 1,1 1-0.5 1,2.1 2-1.6 1,0.2 3-13.3 2-11.5 1,1 1,2.9 3,15.7 1,3 1,1.5 2,0.9 2-1 2,1.6 1-2.2 1,1 1-1.5 1,1.9 1-1.7 1,2.2 1-0.4 2,0.8 3-2.1 1,0.5 3-6.3 1-0.1 1,0.4 4,5.3 3,1.1 1-0.1 1-1.9 1,1.2 2,1.2 1-1.3 3,0.1 1-1 1,2.2 2-1.8 2,1.8 3-1.7 1-1.3 1-2.9 2,0.9 1,1.3 1-0.3 1,1.6 3,0.7 1,0.7 1-2 1,1.2 2,0.5 1-2.3 1,0.8 1-2.1 1,0.1 4,2.7 1,2.6 2-2 1,1.2 1-2.8 3,2.6 2-0.8 1,0.5 1-0.3 3-7.7 2-1 1,2.5 4,6.5 1-1 1,1.6 1-1.2 2-0.7 2,1.3 1-0.6 2,0.6 2-4.4 2-6.8 1-5.3 1-1.9 1,3.2 2,11.1 1,1.7 2,1.7 1,0.3 1-0.5 2,0.9 2-0.4 1-0.8 1,0.7 1-0.1 1,0.9 1-0.3 1,1.4 1-2.8 1,2.8 1-3.6 1,1.3 1-0.4 1,1.7 2,0.3 1-2.4 1,1.7 2-0.1 1-1.1 1,1.8 1-0.6 2,0.2 1-0.9 1-0.2 1,2 1-0.5 1-1.6 3,2 1-1.1 2-0.5 1-0.8 2,2.2 1-0.6 1,0.3 2-1.5 1,1.4 1-1.3 1-0.3 1,1 2-0.8 2,1.5 2-2.1 1,1.1 1,0.1 1,0.9 1-0.9 2,0.7 1-1.3 1,0.4 2-6.1 1-5.9 3-30.3 2-0.5 1,6.1 1,15 2,14.4 1,5.4 2,2.7 1-0.3 1,0.6 1-1 1,1.1 1-0.3 3,1.3 1-1 2-0.4 1,0.4 2-0.5 1,0.8 1-0.9 4-17.4 1,1.5 2,11.1 2,5.9 3,1.3 1-2.2 1,1.6 2-0.6 1,0.9 1-1.5 2,0.7 1-1.6 1,0.3 1-1.6 2-9.1 1,0.2 1,2 2,5.9 2,2.8 1-0.1 1,1.5 1,0.2 1-0.7 1,0.7 1-0.6 2,0.3 1-1.6 1-0.2 1-2.1 2-1.4 1,0.2 3,3.6 1,0 1,1.5 1-0.4 1,0.8 1-0.8 2,1.4 1-1.1 2,1.4 1-0.7 2-0.1 2,0.7 1-0.8 1,0.2 1-0.7 1,1.4 1-0.9 2-0.5 2-1.9 2-7.7 2-5 1,1.3 2,8.6 2,5.6 1,0.5 2-2 1,1.4 1-0.2 1,0.6 3-1.3 1-2.9 1-5.4 4-55.4 1-0.7 4,56.1 1,6 1,2.6 2,1.3 1-0.8 2,0.7 1-0.6 5,0.6 2-0.9 1,0.7 1-0.9 3-5.4 1-0.7 1-1.7 1,2.1 1,0.2 2,3.8 2,2.3 2-1.9 1,2.2 4-0.8 1,0.9 2-0.7 2,0.6 2-1.3 1-2.6 1-0.6 1-2.5 2,0.9 1-0.4 2,2.9 1-1.4 1-0.4 1-2.6 1,0.2 4,7.8 1-1.3 2,0.7 1-0.5 2,0.4 3-5 1-8.3 2-26.2 2-42.3 1-13.8 1-4.8 4,72.5 1,11.4 2,12.8 1,2.5 1,0 1,1 2-0.7 1,1.2 1-1.8 1,0.5 1-2.5 3-3.3 3,0 1-1.4 1-3.1 1-0.3 1,1.8 2,7.1 1,1.2 4-0.9 1,0.9 1-0.6 1,1.3 1-0.7 1,0.1 1,1.7 1-2.5 1-0.5 3,1.9 1,0.1 1-0.8 1,0.5 1-1.3 1,0 1,1.3 2-0.7 1,1 1-1.4 1,1.2 1-1.3 1-0.3 1,0.8 1-0.2 1,1.3 2-1.4 3,0.8 1-1.5 2,0.1 1,1.9 3-2.3 1,1 1-1 1,0.1 1,1.4 1,0.3 2-0.8 3-6 3-12.8 2-5 1,1.1 2,7.5 1,5.9 1,1.7 1,4.8 1,2 2-0.5 1,1.2 2-1.6 1-0.3 2-7.4 1-1 1,1.8 1-0.3 2-4.7 4-27 2,3.9 1,9.6 4,22.2 3,4.1 1-1.7 1,2.2 1-0.5 2,1.1 1-1.7 3,0.7 1-0.2 1,0.5 2-3.3 1,0.7 1-2 2-7.5 3-6.8 1,1.3 1,0.3 3,10.6 2,2.9 1-2.9 1,0.2 1-4 1-1.1 2,7.8 1-0.5 1,3.6 1-0.3 1,1.1 2-1.2 1,1 1-0.8 1,0.1 1-1.2 2,2.1 2-3.6 1-3.8 1-7.2 1-1.4 1-6.4 3,11.2 2-3.5 3-42.4 2-36.7 1,5.4 1,11.1 3,47.7 2,20.7 1,0.3 1-0.8 2-14.7 2-21.8 3-18.1 4,52 1,7 2,2.4 1-1.2 1-0.2 1-6 1-1.6 1-6.3 1-3 1-0.4 1,1.3 3,12.5 2,5.8 1-1 1,0.1 1-1.2 1-6 1-1.2 1-4.7 3-22.2 2-8.8 2-5.6 1-0.6 1,2.5 2,9.8 3,22.8 1,4.5 2,4.7 1-1.9 2-9.9 6-48.4 1-2.2 1,5 1,9.4 1,3.2 3,30.8 2,12.8 3,8.8 1,0 1-1.2 2-3.8 2-6.4 1-1.4 1-0.5 2,5.2 1-0.3 1,5.5 2,4 3,1.2 1,1.2 2-1.1 1,0.1 2,1.4 1-1.2 3-0.1 1,0.9 1-0.8 1,0 1,1.3 1-1 1,0.4 2-1.4 2,2.1 1-2.4 3,1.5 1-1.4 2,1.7 2-0.5 1,0.6 2-0.8 4,1 3-2.8 3-1.1 3,4.3 1-1.1 4,0.5 1-0.7 1,0.2 2-1.4 2-2.1 1-0.1 2,2.8 1,0.1 1,1.2 1-0.2 1,0.7 2-1.6 2,0 2-1 5-11.5 2-7.3 2,1 1-1 2,6.8 4,10.3 2,1.8 1,0 1,2.4 1-0.6 1,0.1 1,0.7 1-0.7 1,0.7 1-0.4 2,1 1-1.1 1-0.3 2,0.5 3-1.7 2-2.5 2-1.1 1,0.6 2-3.6 1,1 2-1.6 1,0.1 1,2.8 3,2.1 2-1.5 1-2.6 1,0.2 1-2.8 1,0.1 1-1.4 2,3 3-2.6 1,0.8 2,6.1 2,4 2-0.6 3,1.4 2-0.8 2,0.7 2-2 1,2.3 1-1.4 3,0.1 1-0.6 2,0.5 1-0.7 1,1 1-0.6 1,1.2 3-1.4 1,0.1 1-1.8 3,2.8 1-1.2 2,0.6 2-1.1 1,1.4 3-0.7 1-0.8 1,0.1 1,1 1-0.9 3,1.1 1-0.2 1-1.2 2-0.4 2,1.4 2-1.1 1,1 1-4.4 2-3 1-2.9 1-4.5 2,2.3 4,11.3 3,0.2 1-0.3 1-2 1-0.8 1-2.9 2-15.5 2-10.9 2,8 2,16.7 1,3.9 1,1.8 3,2.5 1-2.2 1,0.9 1-1.8 2,1.6 2-0.8 1,0.3 1,1.3 1-1.5 1,0 1-0.9 1,2.7 1-1.2 1,0.2 1,1.2 3-2 1,0.9 1-0.1 1-0.6 2,0.1 1-0.8 2,0.6 1-0.5 2,0.5 1-1 2,1.2 1-0.8 1-0.1 1,1.2 1-1.4 1,1.2 1-0.8 4,0.4 1-1.9 1,2.5 1-1.3 1,0.6 1-0.8 2,1.5 2-3.1 2,1.6 1-2 1,1.9 1-0.2 1,0.7 1-0.8 2,1.7 1-1 1,0.1 1,1 1-1.4 1-0.1 1,1 1-0.5 1,1.1 1-2.4 3,2.8 1-2.1 1,1.6 1,0.2 1-1.2 1,2.3 1-2.5 1,0.9 1-0.2 1,0.7 2-1.2 1,0.8 2-1.2 2-0.2 1,1.8 2-0.9 1,0.3 1,1.6 1-0.7 1,0.5 1-0.3 2,2 2,0.2 2,1.2 2,0.2 1,0.6 1-0.1 1,0.9 3-0.1 1,0.9 1-0.8 4,0.5 3-0.4 1,0.6 4-0.2 2,0.3 1-0.4 3,0 2,0.4 10-0.2 1,0.6 1-0.4 1,0.3" stroke="#2ca02c"/><path d="M291,572.9l1-3 2-11.6 1-2.8 3,15.4 2,3 3,0.2 2-0.4 5,0.4 2-0.4 8,0.5 1-0.5 2,0.5 6-0.5 2,0.6 3-0.4 2,0 1,0.5 1-0.6 5,0.4 1-1.2 1-5.1 2-23.4 1,0.8 2,21.1 1,5.7 1,2.1 1,0.2 2-0.3 1-1.2 1-4.5 1-12.4 3-97.8 1-19.9 1-0.3 1,12 1-26.5 1,20.4 1-30 1-8.8 2,43.3 2-5.8 3,17.3 1,12.2 1,1.5 1,8.5 1,3.7 1-2.7 2,13 1,13.6 1-0.3 1,4.8 1-9.6 2,3.9 1,4.5 1,12.8 1-1 2,6.4 1-4.6 1,5 1,0.3 1,10.5 1-11.4 1,8.6 1-1 2,3.6 1-1.8 1,2.2 1,0.4 1,2.8 1,1.1 1,0.6 2-0.2 3,2.1 1-3.5 1,4.6 1-3.5 2,2.8 2-5.6 1,5.8 1-4.9 1,2.1 1-0.4 1-3 1,1.7 2-0.5 2,4.6 1-2.4 1,3.8 1,0.4 3,6.5 1-1 1,0.8 1,3.3 2-0.6 2,1.2 1,2.1 1-0.7 1-2.2 1,1.5 1,0.5 1-1.5 1,1.2 3,1.1 1-1.6 2,1.3 4,1 2-1.1 1,0.6 1-0.4 3,1.8 2-0.5 1-1.1 1,2.1 1-1 1,1.1 1-1.1 1,1.7 1-2.4 1,2.8 1-0.9 1,1.2 1-0.3 1-1.1 1,0.8 2-0.6 2,1.1 1-0.8 2-0.4 2,1.2 1-1.5 3,1.5 1-0.3 1,0.5 2-0.1 2-0.8 1,1.2 2-0.8 2-0.1 1,1.3 1-0.4 1-1.8 1,1.1 1-1.9 1-0.4 1,0.2 1-3.7 2-4.6 4-22.2 3-2.6 1,1.5 1,8.9 3,16.5 2,7.5 1,0.4 1,1.7 1-0.8 1,1.1 3-0.1 2,0.9 1-1.7 1,1.6 1-1.7 2,1.6 1,0.2 1-0.8 1,1.6 1-1.2 2-0.5 1,0.2 1,1 1,0 2-1.5 1,0.6 2,0.2 1-0.6 1,1.3 1-1.2 1,1.3 1-0.9 1,0.1 1-0.6 1,0.4 3-1.6 2-7.1 3-19.2 1-2.4 1,1.1 2,7.8 3,16.5 2,4.2 1,1.3 1,0.4 1-0.9 2,1 2-1.3 2,0.7 1-2.6 1-5.2 3-41.9 1-7.1 1,6.1 2,33.6 1,4.2 4-59.2 1,6.2 2,42.4 1,13.1 1,4.3 1,0.7 1-4.4 3-38.8 1-8.9 1,0.5 4,50.2 2,7 2,1.8 1-1.5 1,0.6 1-0.6 1,1.2 1-1.3 3,1 1-0.8 2,0.9 1-0.4 1-1.3 1,1.2 1-0.3 1,0.8 1-1.2 1-0.2 1,1.1 3-0.2 4-3.6 1,0.7 1,2.5 2-2.2 1-4.1 3-20.4 2,5.8 2,15.7 2,5.9 1,0.5 3,0.2 1-0.6 1,0.4 1-0.7 1,0.8 2,0.4 2-0.6 1,1.3 1-1.3 1-0.4 1,0.6 1-0.8 1,1.7 3-2 2-2.3 1,0.1 3-4.8 1,0.4 1,2.4 1,1 1,3.6 1-0.3 1,1 1-0.4 1,0.6 1-1.2 1,0.9 1-0.8 3,1.3 2-0.3 2,1.1 2-0.4 1-0.8 1,0.4 4-2.6 3,2.6 1,0.3 1-0.8 3,0.9 1-0.4 2,0.6 2-0.4 1,0.9 1-1.1 1,0.6 4-1 3-1.6 4-12.6 1-0.5 1,2.2 1,0.5 3,9.1 1,1.5 3-0.6 2,2.3 3,0.2 1,0.7 3-0.5 2,0.8 2-0.9 1,0.6 4-1.1 1,0.8 1-0.6 2,0.9 4-7.1 2-1.7 3,5.5 3,3.1 4-0.5 2,0.6 1-1.1 1,1.6 1-0.8 3-0.4 1,0.5 1-0.5 1,0.5 1-0.8 1,0.7 1-0.3 2,0.7 1-0.8 1,0.7 1-0.7 4-0.4 2,0.7 3-0.1 1-0.7 1,1.3 1-0.7 1,0.4 1-1.1 4,0.8 1-0.8 1,0.8 1-1 1,0.7 1-0.7 2,1 1-1 2,0.9 3-1 1,1 1-0.2 2-2 2-7.8 3-41.7 2-11.4 4,49.3 2,11 1,1.8 2,0.7 4-1.1 2-2.1 1-2.3 2-1.7 2,3.1 1-0.8 2-9 2-24.8 1-6 1-0.4 4,38.7 1,2.9 2,3.5 1-0.8 1,0.4 1-1 2,0.8 1-0.4 1,0.8 2-1.5 3,0.9 1,0.9 1-1.2 2-0.7 1-1.3 2-1.1 1,0.3 1,1.5 4,1.8 2-0.8 1,0.9 1-1 3-0.8 1,1.5 1-0.3 1,0.6 1-0.6 1,1 2-1.8 1,0.2 1,1.4 1-0.2 1-1.3 4,1 1-1.7 1-0.4 1,2 2-1.3 1,0.9 4-1 1,1 2-1.1 1-1.7 1-3.9 1-7.1 3-41.2 1-3.2 4,47 2,9.9 1,0 1,1.6 1-0.7 2-0.1 1-1.7 1,1.4 1-2.2 2-8.5 3-20.8 1-0.6 1,4.3 2,17.5 3,11 1-1.7 1,0.2 2,1.7 2-0.9 3,1.7 1-2.2 2,0.6 1-1.1 1,1.8 1-2.8 1-1.1 4-13 2,5.1 1,4.8 1,2.4 1,0.5 1-0.1 1-1.9 1-0.8 1-3 1-1.2 1,0.6 4,9.8 1,0.5 1-0.8 1,0.1 1-1.1 1,0.3 3-11.5 2-2.1 2,4.1 1,5.1 2,4.9 1-0.3 1,0.5 2-0.2 1,1 2-0.4 1-0.9 1,0.5 1-2.3 2,1 2,0.4 1-1.7 1,0.9 3-8.8 1-2.4 1-0.9 2,2.5 2,4.1 1,3.8 1,1.5 2,1.3 1,1.9 1-1.3 1,1.4 1-1.2 1,0.9 1-1.1 1,1 5-5 1,2.1 2,0.6 1,1.1 1-0.4 1,1.7 2-1.5 1,1.6 1-1.1 1,0.7 1-0.6 1-2.1 1,0.1 2-2.8 2,1.8 1,0.5 1-0.4 1,0.7 1,3.1 2-2.1 1,0.1 1-1.3 2-5.4 1,0.8 1-3.3 5,11.6 2-0.2 1,1.2 1-1.3 2-0.7 1,1.3 1,0.2 4-1.2 1,1.1 1-0.8 1-0.1 1,1.1 2,0.2 1-1.2 1,1.4 1-1.7 1,1.8 1-1.3 1-0.1 1-2 2-7.9 4-41.9 1-4.3 1,4.3 3,32.7 2,14.8 1,2.5 1,1.2 2,0.6 2,1.5 2-0.8 1,0.4 2-1.9 1-1.3 1-3.4 2-9.3 2-17.2 2-12.7 2,0.2 2,20.6 3,20.1 2,3.2 1,0.3 1,1.5 1-0.2 1,0.7 2-1.7 1,1 5-2.9 1,1.3 1-1.2 2-5.9 4-26.8 1-4.3 3,11 3,20.6 3,7.4 3,1.4 1-1.2 1,1.2 1-1.1 1,1.1 4-0.7 1,1 2-0.8 1,0.6 2-0.3 1,0.5 1-1 1,1.2 1-1.4 1,1.2 1-1 1,0.2 2-0.8 2-7.2 1-5.9 2-18.6 1-14.5 1-3.6 1-0.4 1,2.1 3,33.7 1,6.6 1,2.8 1,0.6 5-13.7 2,2.4 1,5.3 2,6.6 1,2.2 1,0.3 1,2.4 2-0.9 1,0.3 2-1.6 1-1.4 1-3.2 2-3.1 1-0.6 3,1.1 3-9.3 3-2.8 1-7.9 2-28.1 5-90.3 1-1.4 1,0.9 1,8.1 4,83.2 2,26.5 1,7 1,0.2 1-5.3 1-10.9 1-13.6 3-67.4 2-19.9 1,2.5 3,37.4 4,75.2 1,10.3 1,5.4 1,3.7 1,1.8 1-0.3 1-1 1,0.4 1-1.3 1,0 1-0.7 1-1.3 1,1.9 1-0.8 1,1 2,3.6 3,1.6 2,0.9 1-0.9 1,0.5 2-0.6 1-2.2 1-1 1-3.8 3-5.4 1,0.4 1,4 3,6.9 1-0.3 2,1.6 2-0.9 2,1 4-0.6 2,0.6 1-1 1,0.7 1-1.1 2,1.6 1-1.3 2-0.1 2,0.8 1-1.1 1,1.5 1-0.6 1,0.3 2-0.2 1-1.3 1,1 2,0 2,1.3 2-0.4 1-1.8 2,1.3 1-1.3 2,0.6 1-1.1 2,1.1 2-1 3-7.4 4,6.6 1-1.4 1,0.5 1-2.1 1-0.1 2-4.1 1,0.8 1-1.3 3,4.7 1-0.7 2,3.2 1,0.4 1,1.2 1-0.8 2,1.3 2-0.3 2,0.5 1-0.8 1-0.1 1-1.3 1-3 1,0.5 1-0.6 2,4.3 2,1.2 2-2.7 1,0 2-4.9 4-17.7 2-4.8 1,2.4 1,0.5 1,4.4 2,4.6 2,0.8 3,5.6 2,7.5 1,0.4 1-0.8 3-5.6 1,3 1,0.2 1,3 2,3.5 1,0.5 3,0.5 2-1.6 2,0.5 1-1 1,1.1 1-2.2 2,0.3 1,1.6 1-1.7 1,2.2 1,0.6 1-1.6 3,0.8 1-5.4 1,0.8 2-0.6 1,2 1-4.6 1,1.8 2-0.7 1,2 1-0.3 2-3.7 1-0.2 1,3.1 1-1.6 1,2.7 2-2.3 1-3.2 1,4.8 1,0.5 1-1.3 1,2.1 2-3.7 1,2.2 1-2.1 1,0.8 1,2.1 1,0 1,3 1-3.8 1,0.6 2-3 1-8 1-1.4 2-8.3 2,4.4 2,12.2 2,3.1 1-0.4 2,0.8 1,1.3 1-6.2 1-13 3-73 1-7.1 1,5.3 3,74.4 1,12.8 1,1.8 1,0.5 1,4.8 1-0.6 1-1.8 1,0.8 2-0.9 1,1.2 1-1 1,0.8 1-1.9 1,3.3 1-4.3 1,4.9 2-4.9 1,0.1 2,3.3 3-1.7 1,1.9 1-0.2 1-1.2 1,2.1 1-2.1 2,0.5 1-2.3 1,4.2 1-1.4 1,0.4 1-1.2 1,0 2,0.5 3,1.6 1-2.4 2,2.9 1-2.4 2,1.7 1-2.6 1,7.2 1-0.6 2,1.2 3-0.1 1-2.6 1-1.4 2-1.5 1-2.1 1,1 2,4.6 1,0.8 2,0.3 1,0.8 1-0.1 1,0.6 1-1.1 1,1.5 2-1 1-1.4 1,1.8 1-1.1 1,1.5 3-0.7 3,1.1 5-0.8 2,0.8 2-1.2 2,1.4 1-0.8 3-0.1 2,1.6 1-0.4 1,0.4 1-0.6 1,1.1 1-0.5 2,0.9 3,0.2 3,1.1 2,0.2 2-0.3 34,0.5" stroke="#d62728"/><path d="M291,573.5l2-3.2 2-4.8 1,0.1 2,6.4 2,1.1 7,0.6 3-0.6 1,0.4 6-0.1 2,0.7 4-0.7 2,0.4 5-0.4 1,0.6 4-0.3 4,0.4 2-0.5 1,0.7 2-1.4 2-10.8 1-2.8 1,1.2 2,11.5 1,1.7 1,0.4 2-1.2 1-3.5 2-17.7 4-135.2 1-14.2 1,0.1 1-14.7 2,27.2 1-20.2 1,5.8 1,18.2 1-4.6 1-0.8 2,10.8 1,13.2 2,10.9 1-5.8 1,12.9 2,15.2 1-1 1,13.8 1-12.1 1,13.8 1,7.2 1,0.3 1-2 1,1.1 1,6.5 2,21.9 1-4 1,1.5 1-1.9 1,7.1 1-2.6 1,3.9 2,3.7 1-1 1,4 1-1.2 1,10.4 1-10.7 1,8 1-4 1,2.1 1,4.2 1,0.9 1-3.6 1,5 2-4.9 1,5.9 2-5.1 1-0.8 1-8.3 1,0 1-5.6 1-2.8 1,1.4 1-1.5 1,1 2,3.7 1-1.9 1,0.9 1-5.3 1,1.1 1,3.7 1,1.6 2,13.5 2,6.3 1,5 1,0.3 2,7.5 2,1.2 1-0.1 1-1.1 1,2.7 2,1.4 1-0.5 1,2 1-1.9 1,1 2-0.6 1,2.7 2-0.1 1,1 2-0.6 1-1 1,1.8 1-2 1,1.6 1-0.2 1,1.6 1-0.9 1,1.3 1-1.5 2,1.6 1,0.1 2-1.3 1,0.8 1-0.2 1,0.4 1,1 1-0.2 1-1 1,0.9 2,0.9 1-1.3 1,0.4 1-0.4 2,1.6 2-2.6 1-2.3 3-12 1-0.2 1,1.2 4,14.9 1,0.1 3,1.8 1-0.1 1,0.6 2-1.3 1,1.4 1-0.8 1,0.9 1-0.3 4-3.1 2-4.8 3-9.7 2-2.9 5,14.1 2,4.3 3,3 2-0.5 3,0.6 1-0.4 1,0.6 2-0.7 1,0.8 3-0.3 2,0.5 2-0.8 3,1.9 2-1.6 1,0.7 1-0.7 2,0.7 1-0.6 2-0.1 1,1 2-0.7 2,0.1 2-3.8 2-13.6 3-57.7 2-29.6 1,1.2 4,71.2 2,22.9 1,6 3,4.2 1-0.2 1-1.2 1,1.3 1,0.1 1-0.6 1,0.3 1-1.9 1-5 1-11.9 2-37.6 1-8.8 4,54.9 1,1.6 2-4.4 1-0.4 4,12.1 1-1.3 1-4.7 1-13.7 3-80.3 1-6.4 4,91.2 1,10.2 1,4 1,1.9 1,0.7 1-0.3 2,1.1 3-0.3 1-0.7 6,0.7 3-0.4 1,0.9 1-1.2 1,1.2 5-1.3 1,0.7 2-0.6 2,0.1 2-3.6 3-16.1 1-4.1 1-1.8 4,21.6 1,3 1,1.3 1-0.3 2,0.8 2-0.6 1,0.3 5-0.4 1,0.4 2-0.8 1,0.5 1-0.6 1,0.4 2-2 3-5 1,0 2,2.2 1,2.3 3,2.9 4-0.6 2,1.2 1-1.1 4,0.6 1-0.5 2,0 1,0.5 1-0.3 1,0.7 1-0.5 2-0.1 1-0.9 3-0.6 1,0.1 2,1.4 1-0.1 2,0.7 1-1 1,0 1,0.7 1-0.2 1,0.9 1-1.5 2,0.4 3-0.4 2,0.7 1-1.4 1,1.5 4-0.2 1-0.6 1,0.5 3-1.6 2-9.8 2-17.2 1,0.7 3,19.2 1,2.3 2,2.5 2,1.1 1,1.6 1,0.5 2,0.5 2-0.3 2-1.8 1-1.6 2-5.9 2-3.6 1,2.7 1,1.2 2,6.3 2,2.4 2,0.1 1-4.4 1-12.2 3-107.8 1,3.6 3,107.5 1,11.1 1,2.1 1,0.4 1-0.4 1,1.2 1-0.9 1,0.3 8-0.8 2,1 1-0.9 2,0.5 1-0.3 3,0.5 1-0.5 3,0.2 1-0.4 2,0.8 5-1.3 1,1.3 2-0.9 1,1.4 1-1.3 1-0.2 2,0.5 5-0.7 2,0.4 1-0.5 1,0.9 2-1.2 1,0 1-1 1-3 4-25.9 1,1.2 1,0.1 3,21.3 2,5.9 2,1.9 5-0.1 3-2.6 4-14 1,0.7 1-1.4 2,6.4 2,4.7 2,2.5 1,0.2 2,2.7 1,0 1,1.2 1-1.7 1,1.4 3-1.4 2-4.6 2-3.1 3,3.3 1,2.9 2,0.4 1-0.4 2-3 3,1.3 1,1.7 3,2.2 3,1.3 1,0 2-1.6 1,1.9 1-2.2 1,0.1 1-3.3 2-0.6 1,0.4 1,2.4 1,0.8 1-2.8 1-0.5 1-4 1,0.1 1,0.2 1,1.2 2,5.6 1,0.2 1,1.6 2-2.1 1-0.4 1-1.2 1-0.2 3-15.7 1-2 1-4.9 1-1.1 1,2.8 1-2.2 1-9 2-32.7 1,4 3,52.4 1,7 1,3.5 2,1.5 1-0.5 1,0.8 1-0.4 1-1.4 1,0.5 2-2.4 2-10.9 2-24.7 1-7.3 1-0.8 4,38.8 1,4.7 1,2 3,0.3 1,1.7 1-1.1 1,0.6 1-1 1,0.9 1-0.3 1,0.3 2-1.5 1,0.6 1-0.3 2-1.3 2-3 1,0.1 4,2.8 1,0.1 1-0.5 2,1.9 1,0.5 1-0.3 1,1.4 2-1.3 1,0.5 1-1.3 1,1.4 1,0.2 1-1 1,1 2-4.7 1-1.1 2-6.5 1-0.3 2,4.2 1,3.8 1,1.9 2,2.1 1-0.5 1,1 1,0.1 3-1.3 3,1.7 2-1.6 1,1.7 1-1.4 1,0 1-1.9 1-5.4 1-12.6 3-62.9 1-10 1,11.1 2,44.4 2,28.4 2,8.1 2,1.6 2-0.4 1,0.6 1-0.3 1-2.1 1-0.9 1-3 2-15.3 3-41.2 1,7.9 2,37 1,10.5 2,6.6 1-0.2 1,1 2,0.3 1-0.6 2-0.4 2,1.6 1-1 1,0.4 1-0.3 1-1.6 2,1 3-2.2 1,0.4 1-2.7 2,1.1 3,2.7 4,1.6 1-0.1 1-0.7 1,0.4 2-0.3 2,0.4 1,0.9 1,0 1-1.2 1,0 1,0.1 1,1 1-1.5 1,1.2 1-1.3 1,1.2 1-0.6 2,0.4 1-1.3 2-1.1 1-2.4 3-16 1-11 1-3.9 1-8.9 1,0.7 1-1.9 2,7 2,17.6 1,4.1 1,1.8 2-6 2,4.7 2,10.9 1,2.7 2,1.7 1-2 1-4.4 1-6.9 1-10.2 4-65 1-2.9 2,11 2,38.8 2,26.7 1,8.7 1,4 1,2.3 1,1 1,0.2 2-1 3-4.8 1,0.9 2,3.7 1,0.8 1-0.6 2-3.9 5-23.2 1-2.2 1,2.3 1,0 4,19.9 3,7.3 2,1.4 6-0.4 1,0.5 1-0.5 2,0.9 1-1.5 1,1.5 1-0.2 1-2.4 1,0.5 1-1.6 2-1.8 1,1.5 1,0.1 1,2 3,1.4 1-1 3-6.2 2-7.5 2-4.4 2,3.9 4,12.1 1-0.4 1-1.1 1-3.9 3-26.3 2-12.1 1,1.3 4,33.9 1,4.1 1,1.4 3-1.1 1-1.7 4-19.7 1,2.3 2,8.6 2,13 3,5 1-1.4 1-0.1 1-2.6 1-0.7 2-8.3 4-27.4 1-0.1 1-4 1,1.6 1,4.3 1-1.1 1,8.2 1,4.1 1-1 1,2.4 1-7.5 2-7.2 2-18.1 5-87.9 1-0.4 1-4.8 1,5.3 1,24.7 1,6 3,62.8 2,28.2 2,15.5 2,5.3 2-0.9 1-4.2 3-20.9 1-4.3 1,1.1 2,6.2 1,9.4 2,11.5 1,3.6 2,2.9 2,0.1 1-6.5 1,4 2-3.3 1,0.4 1-0.4 1,1.1 2-0.8 1,1.6 1-0.4 1-2.4 1,1.6 2-0.5 1,1.6 1,0.3 1,1 2-3.8 2,2 2-0.5 1,0.5 1,2 1-3.3 1,1.2 1-0.6 1,1.3 1-4.1 2-1.4 1-2.1 1,1.9 1,0 2,4.6 3,0.8 1-1.4 1,0.4 1,3.4 1-4.2 1-0.1 1,1.7 1-0.5 1,1.8 1-0.8 2,0.7 1-1.4 2,1.3 1-2.2 1-0.1 1-1.8 1,1.7 5-20.2 1,4.1 1-0.2 1,2.8 2-8.3 1-8.3 2-8.5 1-2.9 1-1.3 1,0.4 1,2 1,4.7 5,30.3 1,1.5 1,0.3 1,3.4 1-0.6 1,3 2-3.3 1,2 1,0.1 1-0.8 1-2 1,2 1,0.6 1,2.9 1-3.5 2,1 1,1.2 1-0.2 2-4.9 1,1.9 1-5.4 2-6.3 1-9.4 1-0.7 1-5.2 1,0.2 1-4.7 2,10.7 2,4.4 1-0.7 1,0.1 1-3 1-7.3 1,2.6 1,0.5 1,8.5 1,2 1,0.5 1-2 1-9.3 2-4 2,17.1 1,5 1,0.4 1-1.4 1-6.5 1-2.5 1,0.7 3,13.4 2-3.2 1-3.6 2,2.7 1,0.5 2,4.8 1,0.7 1,3.2 1-1.4 1-3.1 1,2.7 1-2.1 1,3.5 2-2.2 1,1.9 3,0.3 1-1.2 1,0.7 1-1.5 1,2.4 1-2.5 1,0.5 1,2.7 2-2.8 1,1.6 1-2 1-0.4 1,2.1 1-2 1,1.1 1-0.4 3,0.4 1,1.6 1-2.2 1,1.2 1-0.6 1,4.5 3-0.3 1-0.9 3-4.6 3-8.4 1,0 1,1.7 1,5.2 3,5.5 2,1.6 2-1.2 2-5.9 2-16 2-23 1,0 1,5.5 3,29.7 1,6 1,3 1,0.6 1,1.6 1-0.5 2,0 1-0.8 2,0.9 4-0.5 2,0.6 5-1.1 4,1.1 1-1.4 1,1 2-0.7 2,0.7 1-0.9 1,1 1-1 4,1.9 2-1.9 1,1.2 2-0.7 3,0.9 1-1 1,0.7 1-0.9 1-0.2 1,0.8 2-0.8 1,0.7 2-0.6 2-2.3 4-2.3 2,4.1 1-0.3 2,1.7 1,0.2 1-1 1,0.3 2-1.3 2,1.9 1-1.6 2,1.4 1-0.7 1,0.7 1-0.9 5,0.4 2-0.3 1,0.6 3-0.5 1,0.6 1-0.9 1,0.2 1,1.2 3-1.3 4,2.1 1-1 1,1 3,0.8 1-0.4 4,1.8 3-0.3 2,0.6 3-0.5 2,0.7 1-0.4 28,0.4" stroke="#9467bd"/><path d="M291,574.3l1-1.4 2-5 1,0 2,5.3 1,1.3 1,0.4 44,0 1-1.8 1-6.2 2-27.4 1-8.2 3,38.2 1,4.3 1,1.2 1,0.1 1-0.8 1-3.6 1-7.6 1-21.9 3-134.5 1,8.6 1-40.2 1,25.2 1-23.7 1,16.8 1-30.6 1-2.4 2,43.3 1-32.6 1,28.7 1,14 1-2.2 1,15.2 1-2.2 1,29 1-22.4 1,15.3 1-7.3 2,34.1 1-6 1-0.1 1,2.2 1,11.6 1-8.1 1,15.7 1,7.4 1-0.6 1,2.2 1,14.8 1-17.1 1,10.8 1,3.5 1,9.3 1-3.1 1,0.8 2,5.3 2,3.2 1,5.5 1-0.4 1,4.8 1-0.4 1,5.5 1-2.8 1,5 1-6.5 1,7.7 1,3 1-8.4 1,4.3 1,0.1 1,4.9 1-4.5 1,1.9 2-3 3-2.5 1,2.8 1-2.6 1,0.6 2,3.2 1-1.9 1,5 1-2.7 1,6.9 3,2.8 1,4.9 1-1.1 1,3.3 1,1 1-1.1 4,4.7 1-1.1 1,1.4 2-0.8 1,1.9 1,0.3 2-0.9 1,0.9 1-0.6 4,1.7 2-0.8 5,2.1 3-0.4 4,1 2-0.6 2,1.1 1-0.4 1,0.6 5,0 2,0.6 1-0.4 2,0.8 3-0.5 2,0.5 3-0.4 1,0.5 3,0 1,0.7 3,0.2 2-0.8 2,0 2-1.8 2-3.8 3-15.1 4-27.1 1-2.1 1,4.1 1-1.9 2,10.7 3,21 2,10 3,5.9 1,0.4 1-0.5 2,0.1 2,1.5 10,0.1 1,0.5 2-0.3 6,0.3 2-0.6 1-1.3 1-2.9 3-17.9 1-2.2 1,1.1 2,10.6 1,1.2 2-8.4 3-24.3 1,1.2 2,11.6 1,11 2,13.6 1,4.1 2,2.9 1,0.5 5,0.2 4-0.7 2-3.4 2-6 1-0.7 3,6.1 1-0.2 1-4.3 3-31.4 1,0 3,29 1,5.2 1,1.3 1-2.8 4-27.4 1,3.9 3,22.7 1,4.7 1,2.3 2,1.6 24,0.3 3-0.7 1-1.1 1-2.7 3-12.2 1-0.3 8,15.4 2,1.2 4,0.5 2-0.3 1-0.9 2-3.5 3-8.9 1,0.1 1,1.7 2,5.8 1,2.2 1,0.9 1-1.1 1-2.5 2-8.3 1-2.3 1,1.1 3,12.4 2,3.1 2,0.5 10,0.1 1-0.6 1-0.9 1-1.9 2-5.8 1-1.3 2,1.6 2-1.2 1,0.5 7,8.4 2,0.9 3,0.3 16-0.2 6-1.8 7,1.9 9-0.3 2-1.9 3-5.4 1,0.6 3,5.2 1,0.9 2,0.7 25,0.2 7-1.5 4,1.4 1-0.3 4,0.5 8-0.4 8,0.5 3-0.5 4,0.4 3-1.6 1-2.1 3-14.7 2-7 2,7.3 2,11.4 2,5.1 2,0.8 4-0.6 4,1.2 5-0.1 1-1.1 1-3.1 2-17 2-24.7 1-3.6 4,44.1 1,4 1,1.1 1,0.5 12,0.1 2-0.9 4-3.3 2,1.2 2,2 4,1 33-0.3 2-2 3-8.9 1-1.5 1,0 3,9.6 1,1.4 2,1.3 5,0.3 1-0.2 1-0.9 1-2 1-5 4-40.6 1-0.4 4,39.9 1,5.1 2,3.7 5,0.7 8-0.3 2-0.6 3-2.1 2,0.3 5,2.4 4,0.4 1-0.4 9,0.1 4-2 4-0.8 2-2 1-0.3 1,0.5 1,1.9 2,2 4-3 3,2.5 1-1.1 1-3.5 1-7.2 1-15.5 4-99.8 1-9.8 1,8.1 4,102.6 1,14 1,7.4 1,3.8 1,1.8 3,0.7 9-1.2 4,1 4,0.3 10-0.3 4,0.3 6-1.1 6,1 6-0.3 1-0.6 1-1.6 3-12 1-2.3 1,2.3 3,11.5 1,1.7 2,1.2 4-0.2 1-0.6 1-1.1 1-2.5 1-3.9 5-45.6 1,1.3 1,3.7 3,31.1 2,12.6 1,2.8 2,2.1 4,0.4 2-0.8 2-3.9 2-14.2 4-65.5 1-9.9 1,0.4 1,12 4,66 2,12.2 2,3.2 3,0.6 7-0.5 2-1.6 1-2.1 1-3.3 2-13 2-20.1 2-5 1,0.3 4,32.1 1,5.2 2,5.5 1,0.8 4-2.7 4,3.9 2,0 2-1.4 4-8.5 1,0.1 4,8.5 2,1.1 1-0.4 1-1.6 1-3.5 1-5.6 5-72.1 1,3.6 1-1.9 4,63.2 1,7.9 1,4 1,0.8 1-3.4 2-15.1 3-37.7 1-0.6 1-2.5 1,5.1 4,45.5 2,8.8 1,0.3 4-10.5 1-0.2 1,0.8 4,12.5 1,1.3 1,0.3 1-0.6 1-1.5 1-2.8 1-4.9 2-19.4 5-90.2 1-15.1 1-1.6 2,25.4 3,60.5 3,30.7 1,4 1,0.7 1-2.5 3-23.4 3-37.4 1-2.8 1,1.7 1,0.5 2,10.2 1,19.2 2,19.8 3,21.3 2,6.6 1,0.8 1,0.1 2-3.3 4-11.9 1,1.9 1,0.5 1,2.6 1,0.6 1,0.3 2-1.7 2,1.2 3,8.8 1,1.4 2,1.3 5,0.4 5-0.8 1-1.6 1-3.5 1-6.5 1-2.7 1,1 2,10.3 1,2.6 2,1.1 18-0.2 5-1.4 4,1 1,0.7 1-0.5 8-0.3 3-1.3 2-2.6 4-11.6 1-5.8 4-7.7 1,0.7 6,21 3,5.5 1,1 2,1 7,0.4 2-0.3 1-0.7 2-3.1 4-14.6 2,0 1,1.5 2,1.2 2-0.2 1,0.8 3,6.3 1-0.8 1-2.5 2-10.3 1-1.9 2,6.2 2,11.8 1,3.3 1,0.9 3-0.4 3,2.1 7,0.9 2-0.5 6,0.4 2-0.4 23,0.4 4-0.4 2,0.5 2-0.4 8-0.3 2-3 4-14.8 1-1.6 5,16.8 2,2.6 3,0.3 2-2.8 1-3.9 3-28.9 1-5.5 1,3.4 3,28 1,5.2 1,3.3 2,1.1 5,0.4 1-0.4 9,0.4 3-0.4 6,0.4 1-0.5 2,0.5 12-0.4 10,0.3 2-0.5 1-0.7 3-7.8 1,0.4 2,5.8 1,1.9 1,0.8 35,0.2 14,0.8 38,0" stroke="#8c564b"/><path d="M291,573.1l1-1.4 2-9.6 1-2.9 3,12.7 1,1.5 1,0.4 1-0.6 1,0.7 3-0.3 2,0.4 4-0.4 10,0.6 3-0.6 1,0.6 1-0.5 8,0.1 5,0.6 1-0.4 3,0.3 1-0.7 1-3 2-26.5 1-2.4 3,30.9 1,1.7 4,0.3 2-1 1-2.4 1-10.3 2-68.1 2-179.6 1-36.3 1,0.2 1-6.7 1,16.8 1-12.7 1,12.7 1-19.9 1,2.8 1,14.7 1,0.1 1-9.7 1,39.9 2,31.4 1,29.4 1-6 1-0.5 1-21 1,68.7 1-32.2 1,44.3 1-20.9 1,17.6 1-18.1 1,12.2 1,34.6 1-29.9 1,16.6 1-13.2 3,40.4 1-17.1 1,17.3 1-2 1,13.8 1-16.1 1,29 1-19 2,22.4 1,5.5 1-5.5 1,6.9 1-2.1 1,5.9 1-8.2 2,15.6 1-8.2 2,3.1 1-5.6 1,8.8 1-2.6 2-11.1 1,0.2 1,6.3 1-1.8 1,6.1 1-4.5 1,7.5 2-5.1 1,10.9 1-3.8 1,1.3 3,15.3 1,2.2 1,4.9 1,8.9 1-5.5 2,0.5 2,6.3 1-1.2 1,7.2 1-5.1 2,4.7 1-0.1 1-1.5 1,2.4 1-2.3 1,4.2 1-1.7 1,2 1-0.3 1-1 1,0.3 1,0.5 1,2 1-0.6 1,1.8 1,0.1 2,1.4 1,1.5 1-2.3 1,0.7 1-0.1 1,1.8 1-0.8 2-0.1 4,2.2 1-1.1 1,1.1 2-0.9 1,0 2,2 1,0.2 1-0.1 2-1.5 1,1.3 2,0.2 1,1.3 2-1.4 1,0 1,1.2 1-0.3 4,1.2 1-0.6 1,0.8 2-0.5 6,1.4 1-2.2 1,0.2 1-0.9 5-15.6 1-4.5 1-1 2,1.1 1,1.7 3,13.2 2,4.2 2,2.6 1,0.1 1,0.9 3,0.1 1,1.8 3-0.5 1,0.6 1-0.4 1,0.6 3-0.3 1,0.6 5-0.8 1,0.8 1,0.1 6-1.1 1,0.7 1-0.4 2,0.5 1-0.3 1,0.6 1-0.7 1,0.2 2-3.8 2-9.3 2-5.5 1-0.2 2,5.9 2,9 1,2.1 2,1.5 1-1.6 2,0.5 1-0.2 3,2 3,0.3 1-1.1 1-2.6 2-12.2 1-1.1 1,1.5 2,8.2 1,1 2-21 2-48 1-7.5 1,5.7 2,39.5 1,11.5 1,4.8 1,4.4 1,2.2 1-0.5 1-4.2 2-15.2 1,1.8 3,25.7 1,4.5 1,2.4 1,0.8 2-0.1 1-0.6 1,0.9 1-0.3 1,0.6 2-0.5 3-4.5 1-0.7 1,0.7 2,3.4 3,1.3 2-0.1 1,0.6 3-0.9 1-1 2-5.3 3-15.5 1-1.7 2,4.7 1,0.7 4-23.2 2,6.9 3,25.8 1,4.8 2,3.9 3,0.4 1-1.1 2-7.5 1-1.4 1,1.8 1,5.3 1,2.1 1,0.7 3-0.4 2-1.8 1-2.6 2-10.9 2-6.8 2,7.2 2,10 1,3.1 1,1.1 2,0.9 1-0.4 2,0.7 2-0.8 4,1 3-0.8 2,0.6 1-1 1,0.9 1-0.4 1,0.3 1-1.4 1,0.2 1-0.6 2,2 2-0.8 2,1.3 4-1.3 1,0.4 2-0.4 1-0.9 1-3 2-17.5 1-1.4 3,20.9 2,2.2 1-0.4 1,0.5 2-0.8 1,1.3 2-1 2-0.2 1-0.9 1-2.6 1-0.1 5,4.2 5,0.1 1-0.2 1-1.1 1,1.3 3-1.2 1-0.7 1-1.9 3-17.2 2,1.2 1,8.7 2,8.5 1,0.6 1,2.1 2,0 1-1.1 2,0.3 2,1.1 5-1.7 2,0.5 2-0.4 2,1 1-1.6 1,0.2 1,1.3 1,0 2-0.5 1,0.5 4-0.4 1,0.3 1-0.7 3,0.5 2-1 1,1.3 1-0.5 2,1.1 2-0.9 2,0.6 1-1.1 1,0.4 2-0.6 3,0.7 1-0.3 2,0.9 1-0.8 1,0.5 1-0.3 1-1.1 1,1.7 1-1.2 1,0.1 1,1.3 1-1.1 2,0.2 1-1.4 1-0.1 2-6.7 3-18.3 1-0.3 5,23.6 2,3.2 1,0.7 1-0.9 1,0 1,0.9 1-0.8 1,0 1,0.8 1-0.2 1-1.4 1,1 1-0.1 1-1.9 1,0.9 1-1.8 2-6.1 1-7.5 2-9.3 1-1.8 1,3.2 3,18.9 1,2.6 1,1.2 3,0.5 1,1.1 2-0.4 1,0.9 1-0.6 1,0.3 4-0.4 2-2.1 3-9.6 2-0.2 1,1.7 1,3.9 2,4.5 2,2.2 1,0.1 1-0.6 2,0.3 5-2.5 2,2.3 1-0.8 1,1.6 3-3.1 4-1.8 1,3 3,1.9 2-0.7 1-0.9 1,1.2 2-0.4 1,0.6 3-0.6 2-2.6 2-11.1 1-12 2-8.4 3,26.1 1,5.4 2,2.6 2,0.3 1-1.2 1,1.4 1,0.2 2-0.6 1-1 2-14.8 3-58.4 1,0.2 3,57.3 1,10.5 1,4.8 1,1.3 5,0.3 1-1.4 4-16.2 1,1.8 2,8.4 2,2.4 1-1.9 3-16 1-2.1 2,5.2 2,11.5 3,7.7 2-0.1 1,1.4 3-0.2 1-0.5 2,0.6 4-0.9 2-12.8 2-36.3 1-10.8 1,5.1 2,36.7 1,12.1 1,5.4 1,0.1 1,1.2 1-0.4 1,0.9 1-0.8 1,0.9 1-0.9 1,1.1 1-1 1,0.5 2,0.3 2-3.5 1-5.8 1-12.1 3-89.3 1-19.5 1-5.1 3,89.8 2,36.1 1,6.3 1,1.8 3,1.1 2-0.3 2-2.3 1-3.2 4-29.5 1-0.5 2,9.7 3,21.3 1-1 1-2.8 1-1.4 1,1 2,6.9 1,1.5 2,1 2-0.2 2,0.6 1-0.8 3,0.9 7-2.7 1-0.8 2,1.7 1-0.4 1,1.4 1,0.2 4-0.1 1-0.6 1,1 2,0 1-0.7 1,0.8 1-1 1,1.2 2-0.1 1-1 4,1.1 1-0.7 2,0.5 2-0.4 1,0.5 3-3 1-3 3-4.9 1,0 1,1.2 3,7 2,1.9 3,0.4 1-0.5 2,0.9 1-0.1 3-1.5 2-4.1 5-22.4 1,0.5 1-0.2 4,20.6 2,4.9 2,1.9 3,0 1,0.5 1-0.4 1,0.5 1-0.5 5,0.1 1-0.4 2-2.4 2-4.9 2-7.5 1-1.6 2-1.2 5,13.9 1,1.5 3,0.1 1,0.9 5,1.8 2-0.1 1-0.7 1,0.8 2-0.2 1-0.7 1,1 1-0.6 2,0.2 1-0.5 1,0.5 3-0.1 3-3.5 4-14.3 2-4.2 5,15.8 1,0.9 1-1.6 2-14 4-68.6 2-10 5,79.8 2,15 1,2.6 2,1.9 4-4.5 1,0.5 2-0.8 2,0.5 1,0.5 1,1.8 2-0.6 1-1.7 2-7.5 1-6.2 5-43.1 1-5.5 1-2.3 1,6 1-2.1 5,41.4 3,14 2-2.4 2-13.1 3-26.2 1-6 2-4.1 2,12.2 4,34.6 1,6.2 2,6 1-0.5 1,0.4 2-3.4 2-8 1-8 1-3.4 1-0.3 1,1.6 4,17.7 2,4.3 1,1 3,0.6 2-1.2 1,0.8 2-0.4 2,0.4 1-0.6 1,1.1 1-1.5 1,0 2-4.7 2-9.7 1-2.7 1,2.2 2,11.2 1,3 1,1.5 1,0.4 1-0.9 1,0.6 1-0.4 2,0.9 1,0 1-0.6 2,0.4 1-0.9 3-0.8 1,0.3 1,1.1 1-0.3 1,0.5 1-0.5 1,0.4 1-0.3 1,0.7 1-0.4 1,0.3 1-1.1 1,1.1 1-0.6 3-0.3 1,1.5 1-1 2,0.3 3-0.5 1,0.8 1-0.2 1-1 1,0.3 1-0.3 1,0.9 1-2 2-1.9 2-3.8 2-8.7 3-20.4 2-7.3 1-0.1 1,1.8 1,6.5 1,2.6 2,12 3,13.4 3,6.4 2,0.7 1,1.1 1-0.9 2,1 2-1.4 1,0 1,0.7 2,0 1-0.6 1,0.3 2-0.9 1-1.1 2-4.3 2-7.9 1-7.2 2-8.4 2,2.6 1,3.3 2,10.9 1,3 2,5 1,0.3 1,2.4 1-0.3 2,0.6 3-6.8 1-4.5 1,0.1 1,1.9 1,4.6 2,5.6 2-0.5 1,0.9 3-0.9 1,1.5 1-0.7 1,1.2 4-0.7 1,0.6 2-1.7 1,0.4 2-1.8 2-0.1 2,0.3 1,1.1 4,1.8 1-0.7 1,0.5 3-0.2 1,0.6 1-0.6 1,0.7 1-0.9 1,0.2 1-1.1 2,1.3 3-0.2 1-0.6 2,0.8 4,0.1 1-0.9 3,0.4 2-0.9 1-1.3 1-0.3 1-1.9 2-1.2 1,0.1 1,1.2 1,2.3 3,2.3 1,0.1 2-1.2 1,0.1 2-2.6 2-10.5 1-8.6 2-7.8 1,2.9 2,15 2,9.4 1,1.9 1-0.3 3,1.2 2-0.8 1,1.6 1-1.6 4,0.6 1,0.6 1-0.7 1,0.8 2-0.4 1-0.9 1,0.8 1-0.8 1,1.1 2-0.8 3,0.7 2-0.7 1,0.9 1-0.9 5,0.5 1-0.5 1,0.8 2-0.7 1,0.7 1-1.3 2,1.1 2-0.1 1-0.6 2,0.6 1-0.5 1,1 3-1.6 1,0.8 1-0.4 2-5.6 1-1 1-0.2 2,5.3 1,1.5 1,0.8 2-0.1 1,1 1-0.9 2,0.7 2-0.2 1-0.8 1,0.5 4-0.1 1,0.9 1-1.5 1-0.3 1,1.9 2-0.6 1,0.6 2-0.2 2-0.7 2,1.1 3-1.3 1,0.8 2,0.3 1-0.5 1,0.1 1,0.8 1-0.2 2,0.8 1-0.7 1,1 8,1.1 17-0.1 9,0.5 3-0.4 4,0.5 4-0.4" stroke="#e377c2"/><path d="M291,574.7l1-1.3 1-4.2 2-12.6 3,15.7 1,2.1 1,0.5 43-0.1 1-1.1 1-3.4 2-15.3 1,2.3 2,13.6 1,3.3 1,0.9 4,0 1-0.6 1-2.4 1-9.5 2-56.6 1-69.6 1-36.1 1,0.3 1-17.9 1,7.4 2-20.9 2,21.1 1,19.5 1-27.7 2,43.7 1-11 2,37.4 1-10.8 1,15.8 2-6.5 2,38.5 1-16.8 3,20.8 1,0.7 1-4.4 1,6.9 1-2.5 1,14.1 1-4 1,15.9 1-9.2 2,5.5 1,11.8 1-5.3 1,4.5 1,2 1-5.4 1,6.8 1,0 2,9.8 1-4.5 1,6.2 1-6 1,6.1 1-0.5 1,0.2 1,4.6 1-1 1,3.6 1-3.2 1-1.2 1-0.1 1,0.9 1-2.6 1,1.7 1-2.1 1,1.6 1-1.9 1,1.1 1-0.9 2,1.5 2,3.4 1-0.7 1,0.9 2,3.6 1,3.7 2,3.6 1,1.7 1,0.4 1,1.4 1-0.9 1,1.4 1,0.2 2,1.9 1-2 1,2.2 1,0.7 1-0.6 1,1.7 1-0.9 1,1.4 2,0.2 1-0.6 2,0.6 1,0.9 2-1.1 1,0.9 1-0.2 1,0.9 1-0.4 1,0.5 1-0.3 2,0.9 1-0.5 2,0.5 1,1.1 2-0.9 1,0.6 2-0.4 3,0.9 1-0.6 3,1 2-0.8 1,0.8 3,0.4 2-0.3 2,0.9 1-0.7 3,0.6 1-0.3 1,0.4 1-0.3 8,0.7 1-0.6 1,0 2-2.1 2-5 3-12.2 2-11.5 1-3.4 2-2.8 1,1.3 1-0.3 2,13.7 4,19.2 2,3.3 1,0.8 6,0.6 7-1.4 1,0.7 5,1 8,0.2 3-0.8 2-2.8 6-14.7 3-17.7 1-1 1,3.8 3,22.3 2,8.5 1,1.5 2,1 6-0.4 1-1.2 1-4.2 3-51.4 1-6.8 3,52.3 1,7.7 1,1.5 1-2.3 3-16.1 1,1.1 3,15.6 1,2 1-1.6 1-7.1 1-15.3 3-71.8 1,1.3 1,16.2 3,69.3 1,7.4 1,2.9 1,0.7 2,0 4-1 5,1.4 3,0.1 3-0.8 3-1.7 3,0.3 4,1.9 3,0 2-2.1 3-12.2 1-1.6 4,14.5 1,1.2 2,0.5 16-0.4 2-2.1 3-6.5 1-1.1 2,2.5 3,6 2,1.2 15,0.1 5-3.2 2-2 2,1.5 2,3.2 3,0.9 3-0.4 2-2.1 4-12.1 1-0.9 1,0.2 1,2.4 2,8.5 1,1.9 2,2.1 6,0.1 1-0.2 1-0.8 1-1.6 2-6.1 1-1.7 2,2.9 2,6.3 2,1.2 10,0.1 1-0.3 1-1.1 1-2.5 3-14.9 1,0.5 1,2 2,11 1,3.1 1,1.7 1,0.4 10,0.2 4-0.4 4,0.5 17-0.1 6-2.7 4,2 3,0.7 7-0.1 4-1.5 5,1.9 2-2.2 2-9.8 3-36.3 1,0.1 4,31.6 2,11.9 1,3 1,1.2 1,0.3 10-0.1 1-0.2 1-1.1 1-2.4 3-14.6 1-2.1 1,2.6 3,13.8 1,2.1 2,1.8 9,0.4 5-0.5 3-3 2-0.8 3,3.2 2,1 11,0.1 1-0.6 1-1.7 2-8.2 1-0.3 1,1.2 2,4.8 1,0.7 2-3.7 2,0.6 3,2.3 2-0.6 2-1.4 1,0.5 4,5.6 2,0.3 1-1.5 1-4.4 3-33.4 1-2.2 3,33.7 1,5.2 1,0.9 1-1.9 3-11.8 1,0.2 2,7 1,1.6 1-1.9 3-24.8 1-5.7 1-0.2 2,21.2 2,13.5 1,2.3 1,0.5 2-1.3 2-0.1 1,1.2 4-1.5 2,2.2 3,1.5 2-1.7 3-5 2-0.2 2,3.9 2,2.5 2,0.6 2-1.5 3-9.5 1-0.9 3,9.3 1,1.5 2-2.3 3-12 1-2.8 1-0.2 1,1.7 2,8.8 2,6 2,1.7 2,0.2 2-0.9 4-4 5-2.5 2-8 3-24.9 1-3.6 1,1.6 3,26.6 2,11.6 1,2.5 2,1.4 2,0.4 5-0.9 2-1.5 2-2.9 1-0.5 3,1.6 1,1.6 3,2.1 4,0 1,0.4 2-0.4 1,0.4 3-0.6 1,0.3 2-1.2 1-1.4 1,0 3,2.3 5,0.1 2,0.4 8-0.5 3,0.2 2-0.9 1-1.3 3-5.9 2,2 2,4.1 1,1.1 1,0.5 2,0.1 2-2.3 2-6.3 5-33.4 1,1.1 1,2.8 1,9.6 4,23.5 1,2.8 1,1.4 1,0.6 4,0.4 2-0.6 1-1.2 1-1.8 1-3.9 1-4.9 3-29.6 1-7.5 1-3.2 2,12.2 1,13.7 2,17.1 1,4.6 2,4.3 3,0.9 9-0.2 2-1.6 1-1.6 1-3.4 5-27.8 1-0.5 2,6.2 1,8.5 3,14.9 2,4 1,1.1 1,0.2 6,0.5 2-0.5 1,0.4 5,0 1-0.4 6,0.2 4-2.3 2-2.8 3-8.2 1-1.5 1-0.3 5,11.6 1-0.2 1-1.9 1-6.6 2-22.9 3-49.2 1-3.2 1,5.6 4,65.2 2,12.9 1,2.5 2,1.2 6-3.8 3,2.4 2,0.5 2-2.5 1-3.5 2-14.1 2-23.8 4-80.3 1-13.6 1-4.3 1-1.4 5,97.5 2,25 1,5.5 1,2.3 1-0.9 1-5.3 2-17.4 2-28.2 2-16.9 1-5.1 1,0.9 1,2.1 3,40.6 3,29.4 2,9.8 1,2.8 1,1.4 1,0.4 1,0.3 2-1.5 3-6.6 1-1.2 1-0.3 4,8 2,1.9 2-0.4 3-3.5 1,0.3 2,2.9 2,1 14,0.1 2-1.1 3-6.4 1-0.5 3,6.5 1,1.1 1,0.3 5-0.1 4-3.7 2-0.2 3,3.3 2,0.7 14,0.2 3-0.6 3-3.4 1-2.9 5-26.3 1-7.9 1,0.1 1-1 2,7.2 3,19 2,9.4 2,4.3 2,1.4 2,0.6 4-0.1 1-0.4 2-2 3-4.3 1-0.6 1,0.4 1,2 3,3.4 1,0.3 1,0.1 5-3.2 3,0.7 2,1.2 3-0.8 3-0.3 2-4.8 3-20.3 1-2.4 1,1.6 3,21.7 1,4.3 1,2.2 1,1 17,0.2 16-0.4 2,0.4 5-0.5 8,0.4 5-0.5 3-2.4 1-1.6 1-0.5 2,0.7 3,3.3 1,0.4 4,0.1 1-0.4 1-1.9 1-6 1-12 3-66.9 1-0.2 1,3.8 3,68.1 1,9.8 1,4.3 1,0.9 3,0.7 2-0.3 4,0.4 5-0.4 9,0.4 3-0.6 2,0 1,0.6 2-0.3 2,0.4 2-0.4 2,0.5 2-0.8 2,0.7 3-0.7 4,0.5 6-0.5 3,0.3 1-0.4 7,0.7 6-0.4 7,0.5 2-0.4 2,0.4 6-0.3 1,0.4 2-0.4 20,1.2 37,0.1" stroke="#7f7f7f"/><path d="M291,573.1l3-10.4 3,10.8 1,1 1,0.3 43,0.1 1-0.7 1-2.8 2-13.4 1-3.4 2,14.2 1,4.4 1,1.5 4,0.5 2-0.3 1-0.8 1-3.2 1-9.1 2-51.8 1-70.5 3-137.3 1,1 1,4.8 1,29.7 1-20.3 1,13.9 1-13 3,58.5 1-34.3 1,29.4 2,16.8 1-10.6 1-0.3 1,57.2 1-22.6 1,8.2 1-3.4 1,37.1 1-23.9 1,24.8 1-1.9 1,0.9 1-0.4 1-7.4 1,20.5 1,0.7 1-9.3 1,23.6 1-1.8 1,8.4 1-8.4 1,19.2 1-9.5 2,18.5 1-4.8 1,10.1 1-6.2 1,7.9 1-0.2 1-3.6 1,13.4 1-11.2 1,7.5 1,0.4 1-1.9 2-0.2 1,8.7 1-11.5 1-0.4 1-7.9 1,2.6 1,5 1-6 1,11.5 1,3.3 1-2.6 2,6.4 1-7 1,9.5 1-2.2 2,9.6 1,1.6 1,3.8 2,4.5 1,0.7 1,3 1,0 1,1.2 1-2.4 1,1.2 1,3.4 1,0.6 2-1.2 1,2 1,0.1 2,2.3 1-0.9 1,0.4 1,0.6 1,1.7 1-3.2 1,2 1,0.2 1,2 1-0.6 1,0.8 2-2.4 1,4.1 1-0.7 1,0.2 1,0.9 1-1.1 2,1.9 1-0.4 2,0.9 1,0 2-1.1 2,1.8 1-1.1 2,1.4 1-0.4 2,1.5 1-0.8 6,0.3 1,0.7 1-0.7 2,1.2 1,0.3 1-0.4 1,0.6 1-1 2,1.2 1-1 1,1.2 2,0.3 2-0.8 1,0.5 3-1.2 2-3.2 1-2.8 2-7.8 4-21.8 1,2.6 1-5.1 1,2 4,22.3 1,2.8 1,5.7 3,6.5 1,0.9 1-0.2 1,1 2-0.8 1,1.3 2-0.9 1,0.5 2-0.2 1,0.8 2-0.8 1,0.6 5-0.6 1-0.8 3-7.1 1-0.2 2,2.7 1,3.2 2,2.5 3,1.1 4-1.3 1-1.5 1-3.6 3-16.8 1-4.3 1-1.4 1,1.8 2,14.9 2,8.5 1,2.1 1,0.5 1-0.6 1-1.1 2-5 1,0.1 3,6.2 1,0.5 1-1.7 1-5.1 3-30.1 1,4.5 2,21.9 1,5.1 1-3.9 1-9.8 2-29.2 1,0.1 1,1.5 3,39.5 1,3.9 1-4.9 1-17.1 3-98.7 1-10.1 4,120.6 1,10.9 1,3.2 1,1 2-0.4 1,0.7 8-0.1 3-2.1 1-0.1 2,1.5 3,0.9 1-0.3 5,0.5 2-0.6 1,0.5 2-2 1-4.3 1-8.3 1-17.8 2-62.8 1-16.7 1,14.8 2,66.3 1,18.3 1,8.2 1,2.3 1-0.5 1-1.6 3-16.4 2-3 4,19.7 1,2.6 2,1.4 2,0 1-0.5 2-3.8 2-6.9 2-2.9 3,9.6 2,4.1 2,0.5 3-0.5 2-2.5 1-0.4 2,0.2 2-3.1 1,0.4 3,5 2,0.9 1,0.2 4-1.7 4,1.2 5,0.6 3-0.5 1,0.4 3-0.2 1,0.4 1-0.9 1,0.7 3-1 1-1.5 3-10.6 1-1.4 3,10.4 1,1.8 1,0.5 3,0 5,1.1 4-0.3 1,0.6 6,0.4 1-0.8 3,0 2-1.8 2-0.6 1,1.1 5,1.9 5-0.5 6,0.5 3-0.7 2,0.5 3-0.1 1-0.5 4,0.1 2,0.6 1-0.5 1,0.4 2-0.4 7,0.3 1-0.4 6-0.1 1,0.4 5,0.2 1-1 2,1 1-0.6 1,0.6 1-0.7 1,0.6 3-0.8 1-1 2-4.3 2-0.3 1,1.1 1,2.9 1,0.8 1-0.2 4-7.9 1,0.7 3,7.2 1,0.7 2,0.6 2-0.5 1,0.7 1-0.6 2,0.6 1-0.5 4,0.7 3-1.1 1-1.5 1-4 4-35.3 1,3.3 2,19.6 2,13 1,1.2 1-0.1 1,1.3 2,0.9 1,1.2 1,0.6 1-0.9 1,1.2 3-1.4 1-1.1 4,0.8 3-2.1 2,0.5 2,2.6 5,1.3 2-0.9 1,0.1 2-2.2 2-3.9 2-2.3 1,0.4 1,1.5 3,5.4 2,1.2 5,0.2 1,0.7 1-0.8 1,0.4 2-0.4 6,0.4 1-0.5 2-9.5 3-36.5 1,2.4 3,36.4 1,5.5 2,2 2,0.5 1-0.4 1,0.3 3-0.5 1,0.6 1-1.6 2-1.7 1-2.9 2-1.9 2,2.8 2,4.1 2,1.3 2-0.4 3,0.1 1,0.6 5-1 4,0.3 3-2.9 1-1.7 1-0.1 1-0.8 1,0.4 3-2.5 1,1 3,5.6 2,1.4 4-0.2 1,0.4 1-0.3 2,0.4 3-0.5 2,0.5 2-0.9 1,0.8 5-0.2 1,0.4 8-0.6 1-0.7 1-1.9 1-4.4 2-25.6 3-95.9 2-35.7 1,14.2 3,78.3 2,38.9 2,24.7 1,5.5 1,2.3 1,0.8 2-0.5 2-2.7 2-6.6 2-9.8 1-2.9 2,2.4 4,16.7 1,1.9 2,1.6 1-0.4 4,0.5 1-0.4 4,0.5 3-0.5 1,0.3 8-1.6 4,1.1 1-0.2 2-1.5 1,0 6,2.2 2-0.3 8,0.5 3-0.5 2-2.2 2-8.9 3-29.2 1-15 1-3.6 1,0.2 4,42.5 1,6.6 2,7.7 2,1.7 2,0.4 2-0.1 3-1.4 1-1 2-4.6 4-15.6 1,1.1 1-0.3 4,16.5 1,2.5 2,2.3 3-1 3-2 7,3.3 2-0.6 3-2.6 3-4.8 2,1.2 3,4.4 3,2.4 1-0.5 1,0.3 2-0.4 5,0.6 1-0.8 2,0.1 1,0.5 1-0.8 2,0.7 2-1.4 1,0.6 1-1.3 3-1.4 1,0.3 1,1.4 1,0.2 1,1 2,0.2 2-2.5 4-12.9 1-0.4 1,0.4 3,7.1 1,1.5 1-0.2 1-0.7 2-3.7 2-6.3 2-3.8 2,1.8 5,16.9 1,0.8 2-0.6 1-2 3-11.1 1-0.8 1,0 1,2 3,9.7 2,1.9 1-0.8 2-8 4-34.7 4-42.8 1-6.2 3,23.9 4,47.7 1,6.7 2,7.9 1-1 2-6.2 4-28.7 2-8.4 1-0.2 2,8.7 2,17.5 3,18.4 1,4 2,3.2 2,1.4 2-1 2-5 2-8.4 2-1 4,12.7 1,1.7 2,1.3 3,0.5 3-0.3 1,0.5 2-1 5,0.9 2-0.7 1,0.4 2-0.6 1,0.6 4-0.1 1,0.7 2-0.9 1,0.3 8,0.2 3-0.4 3,0.5 3-0.3 4,0.6 3-0.9 3,1 4,0 3-0.4 3,0.2 1-0.6 3-0.1 3-5.1 3-6.9 2-5.5 2-8.2 1,1 1,3.4 3,15.4 3,4.7 1,0 3,1.7 3,0.4 5-0.5 1,0.5 3,0.2 4-0.4 2-0.6 4-3.1 3-0.9 4,2.6 2,0.4 5-0.2 1-1.1 3-8.5 1-1.6 1,1.2 1,2.6 2,6.6 1,1.8 1,1 1,0.2 13,0.2 3-0.3 6,0.5 2-0.5 5,0.4 1-0.6 1,0.5 4-0.5 7,0.6 3-0.6 4,0.4 1-0.4 2,0 2-2.2 4-9.9 2,1.2 3,8.3 1,1.4 3,1.2 2-1.4 1-3 1-6.5 4-55.6 1,2.8 1,7.6 3,43.1 2,11 1,1.5 1,0.6 1-0.2 1,0.4 3-0.4 3,0.3 1-0.4 4,0.5 6-0.7 2,0.5 1-0.5 1,0.7 5-0.9 2,0.7 1-0.6 1,0.5 1-0.4 1,0.3 1-0.6 2,0.4 2-0.6 2,1 4-0.8 1,0.6 4-0.3 2-0.8 1-2.1 2-7.5 1-1.2 1,0.5 3,10.2 3,0.9 3-0.6 8,0.6 3-0.5 3,0.8 2-1.1 1,0.8 5-0.6 3,0.5 2-0.5 3,0.9 2-0.4 2,0.8 2-0.1 7,1 38,0.2" stroke="#bcbd22"/><path d="M291,572.9l2-8.1 1-6.4 1,1.4 3,13.5 1,0.8 3,0.5 20,0.2 1-0.3 18,0.4 2-0.7 1-2.6 1-9 2-33.2 1,1 2,36.6 1,6.2 1,1.5 1,0.3 4-0.2 2-1.5 1-4.5 2-30.5 3-149.6 1-19 1-4.6 1-23.5 1,5.8 1-3.7 1-5.3 1-16.1 1,14.2 1-20 1,36.8 1,7 1-0.3 1,5.7 2,43.2 1-0.9 1,23 2-16.3 4,51.1 1,1.4 1-9.2 1,18 2,3.8 2,9.9 1,0 1,14.2 1-12.4 1,14.9 1-11.2 1,13.4 1,2.2 1,8.7 1-8.9 1,1.6 1,10.9 1-2.4 1,5.1 1-1 1,3.1 1-1.8 2,5.4 1-0.5 1,2 1,3.5 2-9.3 1,3.7 2-0.9 1,3.2 1-2.8 1,0.8 1,2.3 2-1.4 2,7.6 1-1 1,1.7 1-0.9 1,5.4 2,6.4 1-2.3 1,3.6 2,3 1,0.2 1,3.3 1,0.1 1,1.4 1-0.5 1,1.9 1-1.5 1,0.3 1,2.2 1,0.5 1,0.2 1-0.7 1,0.7 2-0.4 1,1.3 3,0.8 3-0.7 1,0.4 1,1.5 1-1.5 1,0.7 1-0.4 1,1.9 3-0.5 1,1.1 2-0.7 1,0.7 1-0.7 1,0.8 4-0.4 1,1.1 1-0.4 2,0.2 1,0.7 2-0.4 1,0.9 1-0.8 1,0 2,1.2 1-0.3 5,0.2 1-0.6 3,1.1 1-0.4 2,0.4 1,0.7 1-0.6 1,0.3 1-0.5 2,0.1 3-2.1 1-1.7 3-12.9 2-12.3 2-5.6 1,3.4 1,0.8 3,17.5 2,8 3,5.4 1,0.5 1-0.5 2,1.2 3-0.5 2,0.6 2-1 1-2 3-10.2 4,11.9 3,1.4 7-0.1 2,0.6 1-0.9 2,0.6 1-0.5 1-1.6 1-2.3 1-4.6 2-14.4 2-19.4 1-3.4 1,2.9 1-1.3 2,12.1 3,25 1,4.3 1,2.1 1,0.9 3,0.8 3-0.4 1-0.9 1-2.8 1-6.4 2-17.9 1-2.7 1,4.1 2,19.1 1,4.1 1-0.6 3-11.1 1-1.2 1,0.7 4,7.3 1-0.5 1-6 1-16.2 2-52.1 1-9.1 1,13.3 3,65.5 1,9.4 1,2.9 1,1.3 1,0.1 2-0.8 3-2.8 2-0.8 4,3.4 3,1 5-0.1 1,0.3 1-0.5 1,0.5 5-0.1 1,0.4 2-0.4 2-2.5 4-14.1 1,1.2 2,8.8 2,5.3 1,1.2 2-0.1 1,0.4 2-0.3 7-0.1 1,0.4 1-0.5 2,0.4 1-0.4 2-1.8 3-9.9 1-1.9 1-0.1 4,12.2 1,1.1 2,0.9 3-0.3 2-2 2-0.5 1,0.4 1,1.4 2,0.8 1-0.5 1,0.5 2,0.1 1-0.5 2-2.4 2-6.7 2-2.9 4,10.4 2,2.1 1-0.4 3,0.6 3-0.6 3,0.4 1-0.7 1,0.7 2-0.8 2,0.4 2-1.1 2-1.8 3,2.1 2,0.4 2-1.3 3-1.1 1,0.4 1,1.7 1,0.5 1-0.3 1,0.7 5-0.1 1-1 3-1.2 4-6.8 1-0.7 2,3 2,4.8 1,0.3 1,1.1 3,0.7 2-0.4 1,0.3 1-0.4 1,0.6 3-0.6 1,0.5 4-0.5 1,0.4 1-0.4 2,0.6 1-0.4 3,0.4 1-0.6 5,0.5 4-1 1,0.7 3-0.2 2,0.7 1-1.2 2-0.2 1-2.6 2-11.4 1-1.5 2,10.9 2,5.2 7,0.5 1-0.9 1,0.1 2-2.3 3,0.9 1,1 2-0.9 2-8.1 3-43.2 1-9.7 1-2.5 4,54.9 1,6.4 1,2.8 1,0.7 3,1 4-1 3,1 3-1.1 1-2.2 1-4.5 2-12.8 1-3.4 1-1.4 1,1.9 4,21.3 3,1.9 1-0.5 6,0.2 2-0.5 1,1.2 8-2.6 3,1.5 2-0.1 1,1.2 2-1.5 1,0.8 1-0.2 1,0.9 2-0.1 1-1.2 2,0.9 1-0.4 8-0.1 1,0.4 2-0.4 1,0.6 5-0.6 1-1.4 1-4.9 2-16.1 1-1.3 2,16 1,5.2 1,1.4 2-1.8 2-3.1 2,2.2 1-1.5 1-3.3 2-14.1 1,0.4 1,3.5 2,14.7 2,4.4 1,0.3 1-0.7 1,0.3 1-0.9 2-4.8 2-9.2 1-1.5 1,0.3 2,10.6 2,4.9 1,0.1 1,0.9 1-0.5 2,0.2 1,0.7 1-0.8 1,0.2 1-0.4 2,0.6 1-0.6 1,0.2 2-1.7 2-6.7 3-19.8 1-3.5 1,2 3,20.9 2,6.6 1,1.3 1,0.9 1-0.7 1,1.2 2-0.5 2,0.4 1-0.6 3,0.6 4-3 2-0.4 2,1.2 1,1.7 2-0.4 1,1 2-0.8 2,0.3 1-0.8 1-2.7 2-12.5 1-3.6 3,16.8 1,1.1 1-1.3 2-16.6 3-61.8 2-25.3 4,81.3 1,12.6 1,7.6 1,3.2 1,2 2,0.6 4-0.6 1-1.8 1-3.5 2-12.1 2-15.3 1-0.7 4,27 1,3.7 1,1.3 2-0.3 3,1.8 5,0.1 1,0.5 2-0.5 6-0.1 2-0.3 1-0.8 1-2.3 1-0.9 1,0.6 3,3.8 1,0.3 6-0.5 1,0.8 3-0.3 3,0.4 1-0.6 2,0.4 7-0.5 2-1.7 1-2.1 3-13.1 1-6.6 1-1.2 2,5.1 3,13.3 1,1.7 1,0.3 2,2.1 1,2.1 3,0.5 2-0.2 2-1.7 2-7.7 3-32.5 2-27.7 1-5.7 1,2.4 1,9.6 4,49.3 2,10.6 1,2.3 1,0.9 1,0.4 1-0.4 2,0.8 1-0.5 1,0.4 3,0 3-1.3 2-2.7 4-12.3 2-1.9 4,12.1 3,5.6 2,0 1,0.6 1-0.5 1,0.4 2-0.4 1,0.6 1-0.6 4,0.3 3-0.9 2-5 3-14.9 1-2.8 1-1.2 4,17.3 1,0.7 1-1 1-3.3 4-24.6 1-0.7 1,3.3 4,25 2,5.3 1,0.1 1-0.7 3-6.3 2-2.7 2-0.8 1,2.7 1,0.8 3,7.8 2,0.6 2-2.6 3-8 1-1.4 1-0.1 4,9.9 1,1.8 1,0.5 2-1.5 3-13 2-22.2 3-47.9 2-14.9 1,2.3 1-1.9 4,61 2,20.7 1,4.9 1,0 3-10.1 1-5.4 4-51 2-14.9 1,3.9 2,20.4 3,41.6 2,19 2,7 1,1.6 2,1.1 1-0.1 1-1.1 3-4.9 1-0.8 1,0.3 4,6.1 1,0.8 4,0.5 2-0.2 1,0.5 2-0.6 2,0.4 3-0.7 1-0.9 3-5.1 1-0.8 1-0.2 1,0.6 3,5.4 2,1.3 17,0.4 1-0.5 2,0.6 6-0.5 2,0.6 1-0.2 1-0.9 2-0.3 3,0.2 1,0.5 3-0.1 1,0.5 1-0.7 1,0.6 1-0.2 2-1.5 2-3.5 3-12.8 2-12.3 2-7.6 1-0.3 1,0.1 6,28.7 1,2.3 2-0.8 1,1.1 2,5.1 1,1 2,0.8 1-0.2 2-1.7 3-16.1 1-0.3 2,12.3 1,3.5 1,0.8 1-0.4 2-4.5 1-3.6 3-14.5 2-1.1 5,18.2 2,1.6 1-0.3 3,3.3 1,0.2 1-2.7 2-11.1 2-1.9 2,8.6 1,1.6 1,0.1 3-5.8 1,0.8 1,1.7 2,6 2,3.3 3,1.9 1-0.1 4-3 3-5.4 1-0.4 2,1.5 2,4.8 2,1.9 2,0.6 3-0.4 2,0.2 1,0.5 1-0.6 3-0.1 1,0.5 1-0.6 3,0.2 1-0.4 1,0.7 1-0.6 2,0.5 1-0.6 4,0.7 1-0.5 4,0.1 1-2 1,0.2 2-1 2,0.9 1,1.3 1,0.4 2-0.3 1,0.6 1-0.1 2-2.3 1-4.5 2-22.8 2-37.1 1-10.3 1-0.7 2,38.8 2,27.5 1,6.7 1,3.4 1,0.9 1,0.5 1-0.7 1,0.3 1-0.7 1,0.8 4,0.3 1-0.9 1,0.7 1-0.7 2,1.1 1-0.9 1,0.4 3-0.5 4,0.7 1-1.1 1,0.8 1-0.5 2,0 8,0.7 3-0.3 1-0.5 3,0.8 2-0.4 1-0.7 1,1.2 3-0.4 1-1.2 2-5.1 2-9 1,0.8 3,12.2 1,1.4 2,0 2,1.3 2-1 1,0.7 3-0.4 1,0.5 1-0.1 1-0.9 2,0.8 2,0.2 3-0.6 1,0.4 1-0.5 3,0.7 2-0.8 1,0.9 4-0.5 1,0.4 1-0.7 1,0.7 1-0.4 1,0.8 2,0.1 1-0.6 1,1 3-0.2 1,0.7 2,0.3 40,0.4" stroke="#17becf"/><path d="M291,570.7l1-3.1 2-11.7 1,0 2,11 1,3.6 1,1.3 1-0.3 1,0.6 2-0.4 1,0.6 2-0.5 1,1.1 2-1.2 2,0.8 1-0.5 2,0.6 1-0.5 6,0.3 2-0.4 1,0.5 2-0.1 1,0.5 1-0.5 1,0.4 3-0.4 6,0.7 1-0.5 2,0.6 1-0.2 2-0.8 1-2.4 2-12.4 1,0.7 2,12.9 1,2.4 4,0.3 2-0.4 1-0.8 1-2.7 1-11.2 1-35.3 4-214.4 1-7 1,8 1-6.7 1-50.6 1,71 1-59.9 1,60.1 1-24.9 1,34.7 1,13.4 1,47.2 1-46.8 2,58.2 1-31.1 2,35.9 1-21.9 1,38.4 1-8.6 1,6.5 1,2.8 1-9.1 1,21.1 1-1.6 1,10.1 1,1.8 1-4.3 1,14.4 1,3 1,20.8 1-0.8 1-4.6 1,3.1 1,9.9 1,2.8 1-5.8 1,14 1-11.4 1-0.9 1,20.9 1-14.3 1,10.4 1-2.4 1,5.7 1-1 1,10.9 2-6.1 1,7.7 1-3.3 1,8.4 2-14.2 1,4.9 1,2.4 1-5.4 1,1.7 1,4.3 1-1.8 1,8.8 1-4.7 1,0.2 2,4.9 1-0.2 3,12 1-1.4 1,0.2 1,2.9 1-0.1 1,3.4 1,1.6 2-0.2 1,5.5 1-1.8 1-0.7 1,0.2 1,2.8 2-0.9 1,2.4 1-1.5 2,2.4 1-1.9 1,2.4 2-1.5 1,2.5 1-0.2 1,1.5 1-0.2 1,0.7 2-0.6 1,1.5 2-0.3 1,2 2-0.5 1-1 2,0.6 1,2.1 1,0.5 1-2 1,1.3 1-0.4 2,0.9 2-1 1,0.6 1,2.1 1-2.5 1,3.3 2-2.8 2,0.9 1-0.6 1,3 1-1.7 1-0.1 2,2 1-0.8 1,0.9 1-0.7 1,0.9 2-0.6 2,0.8 2-0.5 1,1 1-1.7 1,1 1-0.5 2-4.7 2-8.6 4-35.7 3-19.7 1,5 1-0.7 5,47.9 2,12 3,6 1-0.7 1,1.6 4-0.3 1,0.8 1-1.1 1,1.8 2-1.2 3,1.6 2-1.1 5,1.4 2-1.3 1,0.6 2,0 1-0.9 1,1.4 1-0.3 1-1 1,0.4 2-1.3 5-14.9 1-0.8 1-4.4 1-2.5 1-0.2 1,0.7 3,17 2,4.6 3,2.6 3,0.9 1-0.8 1,0.2 1,0.9 2-3.3 1-6.2 3-35.5 1-3.3 3,34.1 1,7.8 1,3.5 1-1.5 1-4.1 2-11.6 1-1.2 1,3.7 1,7.7 1,4.1 1,1.4 1-7.1 1-17.9 3-126.9 1-9.8 4,144.2 1,15.1 1,5.1 2,1.3 1-0.5 1,1.1 2-1.4 1,1.4 1-1.4 1,1.4 1-0.1 1-0.8 1,0.2 1,0.9 1,0.1 1-1.2 1,1.2 2,0.5 2-0.9 1,0.4 1-0.6 1,0.4 2-0.3 1-0.7 3,1.2 2-1.3 1,0.7 2-3.1 1-2.7 1-5 1-0.4 1-1.7 1,2.3 2,7.5 1,0.4 1,2.6 3,0.6 1-0.9 4,0.7 3-0.5 1-1.3 2-4.6 2-9 1-2 1,1 2,10.2 1,1.4 2-2.6 1-0.3 1,1.4 2,0.9 1,2.2 2,2.5 1,0 2,1.2 3-2.1 1,1.4 1-0.5 1,0.5 2-0.3 2,1.5 1-1.7 1,0.6 1-0.3 1,0.9 2-1.1 3-2.9 1,1.4 1-0.3 2,0.7 1,1.4 4-0.8 1,0.9 2-0.6 1,0.8 4-0.8 1,0.5 1-1 1,0.5 1-1.6 2-0.4 2-8.1 2-12.1 1-2.6 1,0.6 2,17 1,3.8 1,0.9 1-1.6 3-24.2 1,1.4 2,16.5 2,10 2,0.4 2,1.2 2-1.4 1,1 2-0.2 1-1.6 1-1.9 2-8.8 2-5.6 2,5.9 2,8.4 1,1.9 1,0.3 1,1.8 1-1.9 1,1.4 1-0.9 1,0.6 2-0.5 1,1.7 3-2.1 1,0.7 1-0.5 1,0.7 1,0 2-1 1,1.2 1-0.8 1,1.2 1,0 1-0.8 2-0.6 4,0.2 1,1.1 2-1.8 2-6.6 2,2.1 1,2.3 2,1.2 1,2.2 1-0.7 2,0.5 1-0.8 1,0.7 2-1.3 1,2.1 1-1.5 1,1 1-1.3 1,0.5 1-0.5 1,0.1 1,0.7 1-1.3 1,1.9 1-1.7 1,1.3 1-0.7 1,1.8 1-2.3 3,1.2 2-0.9 3-2.9 2-8.3 3-23.9 1-0.9 4,30.5 1,3.9 1,1.8 1-1.8 1,1.2 1-1.2 2-5.3 1-0.5 2,4.3 1,3.6 1-1.8 1,0.6 1-0.1 1-1.7 1,1.2 3-2.7 1-3.7 2-17.2 1-4.9 4,25.7 1,2.5 1,0.4 1,2 1-2.6 1,3.1 1-2.1 1-0.2 2,1.4 3-1.4 2-0.4 1,1.9 1,0.1 1-1.3 1,0.1 1-1.9 1-0.6 1,0.7 1-0.6 1,1.8 3,1.2 2-0.8 1-0.8 2,0.4 1-1.6 1,0.2 1-0.9 1,0.3 1-0.4 2,2.7 1-0.7 2,1 1-0.3 1,1.1 1-3 1,1.6 2-0.2 2-1.7 2,2.2 1-0.3 1,0.6 1-1.7 1,2.4 1-0.9 1-0.1 1-1.4 1-0.2 1,2.1 1-2.5 1,2.1 1-2.1 1-0.3 1-3.8 3-31.2 1,1.2 3,30.3 2,5 1-1.5 1,3 2-1.2 1,0.7 1-0.6 1-1.7 1,1.6 1-1.6 2-7.6 3-30.4 2,11.4 3,24.6 1,3.2 1-0.8 1,1.8 1-1.6 2,1.5 1-1.3 1,1.7 2-1.5 5,0.9 2-1.6 1,0.4 2-6.4 1,0.4 1-0.2 1-1.5 1,0.5 1,4.4 1,0.7 3,0.2 1-1.3 1-0.1 1-3.1 1,0.9 3,4.8 3,1 1-0.7 1,0.8 5-10.9 1,3 4,7.6 1-0.3 2,2.9 1-1.6 1,0 2-1.5 3,2.5 1-2 1,1.2 1-1.1 2,0.3 1-1.8 2-6.7 2-11.3 1-1.6 1,0.6 1-0.5 2,13.5 2,6.8 1-1 1,2.7 1-1 1,1.8 1-3.8 1,1.2 2-1.5 4-20.2 1-1.2 1-2.6 1,0.5 2,5.9 2,11 2,7.6 1,2.1 2-0.7 1-0.9 1,1.8 1-0.4 1-1.6 1,1.5 4,0.8 1,0.8 1-1.9 1,0.8 1,0 1-1.5 1,1.2 1-1.1 1-0.1 2,1.2 2-3 1,2.3 1,0.2 3-1 1,1.2 1,0.5 1-0.1 2-0.5 1-1.5 1,2 5-0.7 1,0.8 3-1.4 1,1.4 1-1.3 3,1.9 1-2 1,0.6 2-1.6 1-1.3 1-3.4 5-34.5 2,9.5 1,11 2,12.9 2,5.6 1,0.5 1-2.2 2-0.9 1,1.1 1,2.4 2,2 2-2.4 1-2.8 2-10.4 2-17.7 1-14 2-13.4 2,11.5 2,26.1 2,16.8 1,1.7 1,3.4 1,0 2,1.8 1-0.6 1,0.4 1-2.1 1,1.4 1-0.6 1-1.6 1,2.3 1-0.2 1-1.4 1,1.5 1-1.6 1-0.5 2-5.5 3-16.3 1-3.5 1-1.5 2,10.8 1,8.4 3,8.8 1,0.5 1-0.2 1,1.1 1,0 4-10 1,0.2 1-0.7 1,4.4 3,6.5 1-1.8 1,1.5 1-1.2 1,1.2 1-0.3 2-3.7 1,1 1-1 1,1.4 1,0.3 2-4.2 1-4.9 2-13.6 1-2.7 3-26.4 1-1.6 1-5.1 1,3.6 1,7.7 3,35 3,12.5 2-2.3 3-6.7 1,1.4 1,0.3 1,1.6 4,8.3 1-1.4 1,0.5 2-2.8 4-16.5 1-1.1 2,5 1,6.9 2,6.7 1,1.1 2-0.2 1,1 1,0.1 1-4.2 1-0.4 1-2.5 1-5 1-1.3 2-11.9 2-5.8 1-0.4 1,1.8 4,20.1 1,1.7 1,3.4 2-2.7 1-5.9 2-25.3 5-129.5 1-14.4 1-4.2 2,35.3 4,110.1 2,26.9 1,7.5 2,5 2-0.4 1-1.2 3-5.6 2-0.3 1,0.3 2,6 1,0.1 1,2 2-2.6 1,0.6 1-1.6 1,2.8 3,3.1 4-0.7 1,1.9 1-1.4 1,1.3 2-1.4 1,1.2 1-1.1 2,0.5 1-1.7 1,1.2 2-5.8 2-3.3 1-0.8 2,3.4 1,3.8 1,1.9 1,0.3 1-0.1 1-0.9 1,0.8 1-2.2 1-0.4 2,2.4 1-0.5 3,1.6 4-0.5 2,1.9 1-0.2 1-1.2 2,1.8 1-1.1 1,0.8 1-1.4 1,0 1,0.9 1-1.8 1,1.4 1,0 1-1 1,0.6 1-1.1 1,1 1-0.4 1,1.6 1,0.4 1-1.3 2-0.6 1,0.9 1-1.3 1,0 2-2.7 1-3.2 1,0.2 2-3.6 1,0 1-1.4 2,2.2 3,5.8 1,0.4 1,1.8 3,2.7 1-1.6 2,1.3 2-1.6 2,1.4 1-0.8 1,0.6 3-0.8 1,1 3-5.7 5-23.1 1-2.8 2,3 1,5.9 1,1 3,9.7 1,0.4 1-0.9 2-0.3 2,6.8 1,2.1 1,0.8 2-4.6 1-8.1 2-8.5 1-2.1 4,22.6 1,1.9 1,0.3 1,1.3 2,0.7 3-1.3 1,1.1 2,0.5 2-0.8 2,0.6 1-1.3 1,1.1 2-0.1 1-1 1,0.7 1-0.6 1,1.4 1-0.1 1-1.4 1,1.2 5-1.1 1,0.6 1-1.1 1,1 1-1.3 1,1 1,0.1 1-0.7 1,1.1 1-0.8 3,0.5 1-0.6 2,1.2 1-1.5 1,1.2 2,0 2-1.4 1,1.2 1,0 2-0.6 1-1.5 1-0.5 1-3.9 1-1 1-2.3 1,0.2 4,7.6 1,1 3-0.2 2-7.5 1-13.2 1-24.8 3-119.6 1-3.8 4,144.6 1,15.7 1,6.1 1,1.8 2,0.5 1-0.5 2,1.2 1-0.7 1,0.8 1-0.7 2,1.6 1-2.6 1,1.6 1-0.7 1,0.9 1-0.5 1,0.3 1-1.2 1,1.9 1-1.8 1-0.5 1,0.3 1-0.7 4,1.6 1-0.4 3,0.3 1-2.5 1,1.7 1-0.2 2,1.5 1-1.4 1,1.1 1-0.9 2,1.3 1-2.1 3,1.8 1-2 1,1.8 2-0.1 1-1.6 1,1.2 1-0.8 1,1.5 2-3 1,1.1 1,0.1 1-1.6 1,1 1,2.3 2-0.2 2-1.7 1,2 1-1.6 3,1.1 1,0 1-1.1 2,2 2-2.1 2,1.3 1-1 1,0.1 1,0.9 1-1.2 1,0.3 1,1.3 1-2.2 1,2.7 1-2.2 1,1.9 1-1.3 1,1 1-1.7 1,1 1-0.9 1,1.3 1,0.2 1-0.1 1-2 1,3.1 1-1.1 1,1.3 2-1 1,1.1 2,0.2 2,0.7 1,1.1 1-0.3 3,1.4 5-0.4 2,0.4 5-0.2 1,0.6 2-0.6 6,0.4 1-0.3 1,0.5 4-0.4 4,0.4 7,0" stroke="#1f77b4"/><path d="M291,574l2-3.8 1-3.1 1,0 3,6.9 2,0.8 43,0.1 1-0.9 1-5.4 2-27 1-4.7 2,28.9 1,7.5 1,1.5 1,0.2 3-0.2 1-1.6 1-5.5 2-60.1 3-221.5 1,11.3 2-21 1,5.3 1,10.5 1-18.4 2,37.3 1-6.4 1-12.9 1,27 1-26.8 1,45.7 1-17.2 2,82.9 1-38.8 1-10.8 1,47 1-12.4 1,3.1 1-4 1,35.4 1-15.5 1,26.1 1,4.8 2-6.4 1,32.8 2-18.1 1,35.4 1-20.7 1,2.7 1,12.4 1,6.6 1-7.3 1,13.2 1,3.1 1,8.2 1-6.9 1-0.6 1,8.6 1-4 2,13.7 1,0.3 1-5.3 1,7.6 1-1.8 1-0.2 1-10.2 1,4.5 1-6.3 1,0.8 1,0.1 2-9.8 1,4.9 2-10.2 1-0.3 3,11.7 1-2.3 2,10.8 1,9.2 1,2 2,15.1 1,3.4 1,0.2 1,5.7 2,7.1 1,1.9 2,2.1 1-1.6 1,3.7 1-0.5 1,0.1 1,1.8 1-2.3 1,3.1 1,1.3 1-1.3 2,2.1 1,3.5 1-3 1,0.2 1-1.1 3,3.8 1-0.9 1,0 1,1.9 1-1.5 2,0.8 1,1.5 1-1.4 1,1.3 1,0.2 1,1.4 1-0.7 3-0.2 2,1.3 2-0.2 1,1.4 1-0.7 2,1.2 1-1 2-0.3 2,1.5 1-0.6 1,0.4 1-0.7 1,0.9 2,0.2 1-1.1 1,2.1 2,0 1-1 2,1.4 2-0.6 3,0.5 1-0.3 2,0.6 1-0.6 3-6.1 2-13.5 5-55.5 1,6.9 1,1.5 3,21.5 4,37 1,5 3,4.5 5,0.8 1-0.3 2,0.7 4-0.3 2,0.3 2-0.5 3,0.8 5-0.6 2,0.8 1-0.6 3,0.7 1-0.3 2,0.8 2-1.1 2-2.7 3-9.5 1-2.5 1-0.9 1,1.3 4,12.1 1,1.7 3,1.6 1-0.1 1-1.1 1,0.9 1-0.2 1-1 1,1.2 2-1.9 1-3.4 3-29.7 1,1.6 3,27.5 1,1.7 1-1.2 3-12.8 1,0.6 2,8.4 1,2.4 1-2 2-25.8 3-84 1-7.9 1,10.6 3,86.1 1,16.4 1,7.6 1,3.6 1,2 2,0.7 4-0.5 2,0.5 1-0.6 2,0.4 2-0.3 1,0.6 1-1.8 1,0.2 2-1.1 2,1.8 1-0.1 1,0.8 1,0.1 1-0.7 2-0.2 2,0.5 1-0.6 2-3.2 4-26 1-0.9 2,8.8 2,15.6 1,4.2 2,2.2 5,0.6 1-0.5 2,0.5 3-1.2 1,1.1 2-0.6 1,0.7 1-0.9 1-0.1 2-4.6 2-6.8 1-1 5,11.9 3,1.4 2-0.1 1-0.5 2,0.8 1-0.8 2,1 4-0.7 4,0.8 3-2.2 2-2.2 3,3.2 3,0.8 1-0.4 2,0.5 2-0.4 2,0.8 1-0.1 1-0.9 3,0.5 1,0.7 1-0.9 5-0.1 2,0.6 1-0.9 1,0.8 2-0.9 1-1.8 3-16.8 1-2.6 3,15.8 1,3.7 1,1.4 1-0.1 1-1.2 3-5.5 5,7 1,0 1-0.9 1-2.6 3-14.5 1,1.4 3,14.7 2,2.7 1-0.9 1,0.5 1-1.3 1-0.5 1,0.7 1-0.5 2,0.8 4,0.6 1,1 1-0.6 1,0.3 2-0.4 1,0.8 2,0.1 1-0.6 2,0.9 1-0.6 2,0.1 5-1.1 1,0.5 1-0.7 1,0.9 1-0.5 1,0.8 2,0.1 1-0.4 1,0.5 1-0.2 1,0.6 1-0.8 1,0.4 4-0.2 4,0.5 7-0.8 2,0.3 2-0.6 3,0.5 1-0.1 2-2.9 2-11.2 2-7.6 1,0.6 3,14.4 2,5.6 1,0.9 3,1 1-0.5 1,0.4 2-0.1 1-0.8 1,0.7 3,0.3 2-0.6 1-1.3 1-3.6 1-7.1 3-34.4 1-5.3 2,19 2,7.5 1-2 1,0.2 1,3.5 3,18.1 2,5.3 3,0.5 2-1.1 3-2.7 2-3.2 2-7.9 2-1.5 3,11.1 2,4.6 2,0.9 2-0.2 1,0.5 1-0.4 2,0.5 1-0.8 1,0.6 6-0.6 7,0.6 4-0.7 2-2.1 5-10.3 1-0.2 1,0.8 1,1.9 1-0.6 1-3.5 2-17.8 1,0.6 1,5.4 1,12.5 1,8.3 1,4.4 3,1.7 3-0.8 3,0.3 2-1.1 1-1.3 3-9.4 1-0.9 1,0.5 2,6.8 2,4 1,0.9 2,0.6 2-0.3 1,0.7 3-0.7 5,0.3 1-0.5 2-2.5 3-16.5 1-3.8 1,0 4,20 2,2.8 3,0.1 1,0.5 6-0.4 3-3.6 2-5.8 1-1.1 1,0.1 1,1.5 2,5.4 2,3.1 1,0.6 2,0 3-1.2 2,0 2-0.9 1-2 2-7.9 1-2.3 2,1.7 1-3.2 1-11.5 1-24.7 3-107.5 1,0.6 1,16.9 2,85.4 2,44.1 1,7.9 1,3.1 1,1.1 1,0.4 2,0.2 4-0.8 1,0.5 2-0.4 2,0.6 1-0.7 2,0.9 1-0.4 9,0.1 1-0.4 2,0.4 1-0.6 2,0.1 1,0.6 1-0.4 1,0.5 3-0.8 2-1.4 2-0.6 6,2.4 1-0.6 1,0.2 1-0.9 2,0.8 4,0.6 4-0.4 1,0.6 2,0.2 1-0.7 5-0.3 3-5.6 3-13.7 1-2.4 1-4.5 1,1.6 1,3.6 2,11 3,9.4 1-0.2 1,0.8 3,0.7 1-0.8 3,0.7 2-0.6 2-2.1 1-2.7 2-13.8 2-19.7 2-11.4 1,3.2 4,36.4 2,7.6 2,2.6 5-0.2 2-0.6 1-0.8 5,0.9 1,0.5 3-1.9 1-1.5 2-0.8 1-0.9 6,5.3 7-0.5 1,0.5 1-0.7 1,1.2 1-0.9 1,0.4 3-1.2 1-1.5 2-0.6 3,1.1 1,1.4 1-0.4 1,0.7 3,0.3 2-2.5 1-2.3 2-9.9 2-13.6 1-2.6 1,1.6 2,14.6 2,9.8 1,0.4 1-0.2 1-4 2-13.9 2-22 2-6.9 1,3.6 1,7.1 3,28.7 2,8.7 1,1.4 1-0.9 2-4.8 3-11 1-0.6 1,1.1 4,13.6 2,1.4 1-0.1 2-1.4 3-5.4 4-17.3 2-5.1 1-0.6 2,2.2 4,16.7 2,4.8 1-1.4 2-8.5 2-23.2 4-70.4 1-6.3 1-2.6 2,17 3,56.2 2,26.1 2,15 2,5.5 1,0.2 1-0.8 4-10.8 2,1 1,2.5 1,0.7 2,4.7 2,2.6 1,1 2,0.4 1-0.5 1,0.8 1-0.9 1,0.5 1-0.4 3-3.6 1-0.3 4,4 2,1 1,0 2-1.1 2,1.2 2-1 4,0.6 1-0.4 1,0.5 1-1.2 1,1.1 3-1.2 1-1.6 1-0.6 1-2.9 2-3.5 1-0.1 1,3.7 2,4.5 1,0.7 1,0.1 1-1.1 1,0 1-2.2 2-2.3 2,1 2,3.2 2,1.8 1,0.3 1-0.4 3,1.2 2-0.7 1,0.3 4-2.9 1-1.4 1,0.3 1-0.8 1-2.2 1-0.5 3-7 2-1.8 1-1.8 1,2.7 2,2.8 1,3.5 3,5.2 3,2.8 1,0.6 6,0.1 2,0.6 2-0.5 3,0.1 2-0.9 1-2.2 1-4.2 2-15.6 1-3.3 1,1.1 1,2.6 1-1.7 1,0.2 1,1.2 1-0.1 2,5.3 1-0.8 3-17.6 1-2 4,29.1 1,5 1,0.9 1,0.1 1-1.8 1-0.5 1,0.1 1,2.1 4,3.6 3-0.4 2,0.4 3-0.5 4,0.4 1-0.3 1-1.1 1-2 2-8.3 1,0 1,2.2 2,7.5 2,2.2 1-0.7 1,0.7 1-0.5 1,0.6 1-0.3 1,0.5 4-1.1 4,0.5 2-0.2 1,0.6 3-0.3 1,0.5 2-1.1 1,0.7 3-0.6 3,0.4 2-1.5 4-12.5 1-2.2 1-0.2 5,15.5 1-0.2 2,0.8 1-1.7 1-5.2 1-10.3 1-18.8 2-71.5 1-20.5 1-4.7 1,5 3,99.7 1,17.5 1,6.5 1,3.2 1,0.8 4,0 1,0.9 2-0.8 5,0.1 1,0.6 1-0.7 1,0.5 2-0.4 2,0.6 1-0.6 4,0.7 1-0.5 1,0.4 2-0.5 1,0.4 1-0.5 1,0.4 1-0.5 1,0.8 4-0.9 1,0.5 2-0.5 4,0.8 2-0.4 5,0.1 2-3.8 2-11.3 1-2.9 1,1.1 3,14.4 1,1.5 2,1.2 8-0.5 2,0.3 1,0.6 2-0.9 1,0.4 6,0.3 2-0.7 3,0.9 2-0.5 5,0.6 2-0.3 14,1.3 36,0" stroke="#ff7f0e"/><path d="M291,572.3l1-1.6 2-9.9 1-1.6 2,9.7 1,3.3 1,1 8-0.2 2,0.6 3-0.6 6,0.7 1-0.6 1,0.3 1-0.4 1,0.6 2-0.3 1,0.5 1-0.6 1,0.3 3-0.3 1,0.5 2-0.6 4,0.7 2,0 1-0.5 2,0.6 1-0.3 1-2 1-4 2-11.7 1-0.4 3,16.6 1,1.4 1,0.4 3,0.2 2-0.9 1-1.7 1-8.1 1-19.8 3-104.9 1-9.1 1,10.2 1-9.4 1,6.2 1,1.7 1-19.5 1,32.4 1-3.4 1,14.7 1-12.5 1,8.5 1,28.5 1-25.6 2,23.2 1,5.4 1-4 1,0.6 1,9.8 1-0.4 2,12.9 1-3.5 1,7 1,2 1-2.7 1,8.9 1-2.4 1,2.7 1,7.6 1-6.3 1,5.4 3,9.3 1-4.2 1,5.9 1-4.5 1,7.5 1-7.2 1,3.1 1,6.2 1-1.5 1,5.8 1-7.2 1,1.8 1,4.5 1-1 2-0.2 1-2.7 1-5.4 1,1 1,0 2-5.7 1,1.1 1-1.1 1-4.1 1,2.1 1,0.2 1-0.5 1,1.1 1-2.4 1-0.6 1-1.8 2,3.9 1,4.1 1,1.1 1,7.5 1,1.3 1,9.2 1-0.9 1,0.8 1,1.8 2,1.5 2,3.4 1-2.2 1,1.2 1-0.3 1,3 1-2.5 1,2.1 1-0.3 1-3.8 1,3.8 1,0 1-1.3 1,0.5 1,1.5 1,0.1 1-2.2 3,2.2 1-1.5 1,0 1,1.8 1,0.3 2-0.8 1,1.1 1-0.2 1,0.8 1-0.1 2-2.3 2,3.5 1-1.1 1-2.1 1,2.7 1-1.8 2,1.4 2-1.1 1,0.6 1,1.8 3-2 2,1.3 1,1.4 1-2.6 1,1.6 1-0.9 1,1.5 1,0.1 2-1 1,1.3 1-1.2 1,1.2 1-0.8 2,0.4 1-2 1,1.5 1,0.1 1-0.9 1,0.2 1-2.2 1-0.8 2-8.1 6-64.6 1-0.5 1-5.1 1,2.3 5,55.6 2,15.9 2,6.4 1,0.9 2,0.3 1,0.8 1-3.8 2-4 1-0.3 1,3.9 2,4.2 1-0.4 1,1.4 1-0.9 1,1.2 5-6.6 3,6.8 1,0.6 1-1.3 2,0 2,1.8 1-2.3 1-0.5 1,1.2 2,0.5 2-2.9 2-1.3 2-8.5 1-2.5 1,0.6 1-6.6 2,3.6 2,9 2,6.2 1-0.1 2,2.7 1-1.1 2,0.5 1-0.9 1,2.2 2-2.5 1,2 1-1.1 1-5.2 3-27.9 1-4 1-1.1 2,22.8 1,4.9 1-0.3 3-21.4 4,26.7 1,3 1-2.6 1-8.2 3-34.1 1,0.1 4,42.3 1,3.9 1,1.1 1,0 1,1 1-3.1 1,2.2 1-0.4 1,1.1 1-2.5 1,3 1-3.9 2-4.9 5,8.3 2-1.4 1,1.8 1,0.1 1-1.6 1,0 1,1.8 2-1.5 1-5.8 1,0.4 1-3.3 1-1.7 1,0.8 2,5.8 1-0.5 1,0.2 2-4.6 1-6.8 1-0.7 1,1.1 1,3.2 1,7.4 2,3.7 1,3.5 2-4.2 1,2.3 1-1.9 1,2.1 1,0.2 1-0.5 2,0.9 1-0.2 1-0.8 1,1.6 1-1.4 1,0.3 1-0.8 1,1.4 1-2.7 1-0.8 1-3.3 4-21.8 2,5.7 1,8.9 3,12.8 1-0.1 1,1.3 1-1.3 1,1.6 1-2.5 2,2.1 1-0.8 2,1.1 1-1.8 1,1 3-0.9 1,2.1 1-0.6 1,0.5 2-6.3 3-21.1 1-1.8 2,6.2 1,7.3 1,1.2 1,5.8 1,0.9 1,3.3 1,0.2 1-1.3 3-1.4 2,5 1-0.1 1,0.6 1-0.1 1,2.6 3-1.2 1,0.2 1-1.2 1,1.5 1-0.6 1,0.4 1-1.1 1,0.9 2-1.4 1-3.4 2-12 1-10.1 1-2.3 3,20.9 2,7.2 1,0.7 1-1.1 2,2.3 1-1.5 1-0.3 1,0.9 1-1.8 1,1.8 1,0.6 1-0.2 1-1.3 1,1.3 2-2.5 1,1.5 1-0.1 1-0.8 1,1.6 1,0.3 1-0.6 1,0.9 1-1.3 1-2.7 1-8 3-67.2 1-9.8 1,13 3,68.3 2,6.9 1,0.8 2-0.1 1-1.3 1,2.8 1-1 2-0.9 1,0.6 1-0.8 1,0.2 1-0.5 2,1.3 1-2 1-0.4 1-1.3 2,1 2,2.9 2-0.9 1,0.6 1,1.8 1-2.4 1-0.8 1,1.9 1-1.7 1,0.9 2-0.1 2,0.8 2-1 3,1 1-1 1,0.8 1-0.9 1,0.8 3-0.5 1,1.3 1-0.9 3-0.3 1,0.4 1-0.6 1,1.5 2-6.5 2-17.3 1-15 2-8.8 4,39.7 1,5.4 1,1.5 1,0.4 1-0.8 1,0.3 1-2 1,0.5 2-1.5 2,0.7 1-0.4 1,2.7 3-0.3 1,0.5 2-5.4 4-32.6 2,4.3 3,23.3 2,9.6 1,0.2 1,1 1-0.3 1,1 1-2.1 2,0.1 1-0.7 1-1.6 3,2.1 1-1.2 1,0.2 2-6.2 1-7.5 2-4.9 3,15.1 2,5.3 2,0.9 1-2 1,2.8 1-1.6 2,0.8 1-1.6 1,2 1-0.2 1,0.8 1-1.3 1,0 1,1.4 2-1.3 1,0.9 1-0.8 3,0.8 1-1.2 1,1.4 1-1.3 1,0 1,1.6 2-1 1-1.3 1,1 2,0.1 1,0.5 1-0.6 1,0.4 1-0.8 1-3.7 3-33.9 1-6.5 1-2 4,42.9 2,3.3 2-0.6 1,1.1 3-0.1 1-0.6 1,0.8 2-6.7 1-6.4 1-14.1 1-6.4 1-1.7 1,3.5 2,20 1,6.2 1,2.1 1-0.3 1-1.5 1-4.3 1,0.9 1-1.6 1,0.4 3,7.4 2-0.1 1,0.9 2-0.1 1,1 1-0.4 1,0.8 1-1.5 2-0.1 2,1 2,0 1,0.6 2-0.6 1,0.7 1-0.7 1,0.2 1,1.1 1-0.8 2,0.1 2-1.2 1-1.1 1-0.3 1-2.1 1,0 1-2.9 3-20.7 1-2.2 2,9.9 2,15.1 1,2.5 2,2.5 2-0.1 2,0.6 1-1.3 1,2 1-1.8 1,1.2 1,0.2 2-1.2 1,0.3 1,1 2-3.1 2-11.4 2-16 1-5.5 1-2.7 4,30.7 1,4.2 2,2.4 1,0.2 2-1 1,1.5 2-2.9 1-3.1 1-0.6 1-4 1-1 1,0.2 2-2 1,5.6 2,4.5 3,3.1 1-1.6 1,1.7 1-1.1 1-0.3 1,1.7 1-0.5 1-1.6 1,0.7 1-0.3 1,0.9 1-0.1 1-1.9 1,1.8 1-0.9 2,0.9 1-0.6 1-1.9 1,1.9 1-1.7 1-0.4 1,1.1 2-2.2 3,2.8 1-0.8 1-3.4 3-3.9 2,6 2,2.1 1,0.3 2-2.2 3-18.2 1,2.3 3,18.8 2-0.6 1-1 1-0.1 1,1.8 1-1.6 1,0.5 2-3.7 1-0.1 4-9.2 1,2.7 1-0.5 2,5.8 1,1 2,3.6 1,0.1 1-0.7 1,2 1-0.8 2,0.3 1-1.1 1-0.2 1,2.5 1-2.5 1-0.1 2-4.3 5-32.6 1,0.9 4,28.2 1,4.4 1,1.4 1,3.8 1-2 1,1.5 1-1.9 3,2.1 3-1.6 2,0.1 1-0.8 2,0.5 3-10 2-20.1 1-5.8 1-2.7 2-0.1 4,28.6 1,5.1 1,1.4 1,3.8 1,0.8 2-1.9 1,0.3 1-1 3,2.3 1-1.4 3,1.4 2,0 1-0.8 1,0.9 3-1.8 1-0.1 1,0.7 1-0.2 1,2.8 2-4 2-6.6 1-6.3 5-63.1 1,2.9 1-1.4 4,53.7 2,14 1,3.4 1-0.6 1-1.9 4-12.5 1,1.3 1,0 1,1.2 1,8.7 2,5.3 1,0.7 1,2.8 1,0.3 2-0.5 2-4.7 1-0.9 1-3.7 1-0.5 1-1.7 2,9 1-2 1-0.9 1,0.1 2-4.4 1-0.9 2-4.8 2-11.7 3-43.8 1-6.1 1,9.8 1,3.3 6,43.4 1,2.3 1,5.7 1,2.1 1-2.5 2-17.1 1-13.1 4-82.1 1-2.5 1-13.4 2,9.8 1,15.3 2,48.4 3,48.4 2,9.5 1,2.3 1-0.9 2,4.7 1-1.4 2-8.4 2-4.9 2,0.3 1,1.6 3,13.1 1,0.1 1,3.3 1-0.8 1,1.9 1,0.6 3-2.7 2,2.6 1-2.9 1,2.8 2-3 1,2 2,0.5 1-2.3 2,2.8 2-1.5 1,0.3 1,1.8 2-1 1-1.5 1,1.4 1-0.9 1,1 1-0.3 1-1.8 1,0.8 3,0 1-2 1,0.2 1,1.7 2,1.7 2-0.5 2-1.7 1,1.8 2-1.1 1,2.6 1-1.1 1-2.6 1,2.4 2-0.2 1-1.1 3,0.7 1,0.8 1-2 2,1.7 2-0.3 1-1.2 1,1.8 1,0.1 1-1.5 2,0.7 2-2.6 1-3.1 4-19.5 1-1.8 2-13.8 1,3.5 1,0.4 1,4.8 1,0.1 1,7.9 3,15.8 3,7.7 1-0.8 1,1.6 1-0.5 1,0.4 2,1.5 2-1.7 1,0.2 2,1.7 2-1.4 1-0.1 1-1.2 1-4.6 2-4.6 1-1.2 3,8 1,0.4 1-0.6 2-3.4 1,0.8 1-1 2,0 2,3 2-2.2 1,2.7 3,2.8 1-0.5 1-2 3-17.7 1,0.2 4,20.9 2,2.7 1-1.2 1,1.1 1-0.8 1,0.9 1-0.2 2,0.8 1-1.9 1,0.8 2-1 1-1.4 1-3 2-2.1 1,2.3 1,0.6 2,4.4 1-0.7 1,1.4 1-1.2 1,1.4 1-1.2 2,0.2 1-1 1,0.9 1-1.6 2,1.9 1-0.1 1,0.6 1-0.5 2,1.1 1-1.4 1,1.4 1-1.4 2,1.9 1-1.8 1,0.6 2-0.7 2,1.1 1-0.3 2-2.6 2,2.2 1-1.3 1,0.7 2-2.8 1-0.3 2-3.7 1,0.2 1,3.5 1-0.5 2,3.2 2,0.8 1-0.1 1,0.9 2-6.4 1-6.5 4-50.7 2,14.3 2,30.6 1,9.2 2,8.5 1,0 1,1.3 1-0.8 1,0.7 1-1.7 1,1.9 1-1.9 2,1.4 1-1.4 1,1 1-0.4 1,1.3 1-1.9 2,1.4 1-1.5 1,1.9 3-1.1 1,0.8 1-1.2 1,2.1 1-2 2,0.4 1,1 1-1.4 2,1.3 1-1.6 1,0.8 1-1.1 1,1.8 2-0.8 1,0.6 1-1 1,1.1 2-0.2 1-0.7 1,0.7 1-0.9 1,0.7 2-0.6 1,1 1,0.1 2-1.5 1,0.9 1-0.5 1,0.1 1-2.1 2-0.4 3,0.6 1,1.3 1,0 1,1.6 1-1.3 4,1.4 2-1.3 1,1.6 1-2.3 2,1.6 1-0.2 1,0.5 2-1.4 1,0.9 1-1.2 1,0 1,1.6 1-0.2 3,1 1-2.3 1-0.2 1,1.8 1-0.4 1-1.5 2,2.6 1-2 1,2 1-0.7 1,0.9 1-0.1 1,0.7 2-0.1 8,2.5 5,0.2 1-0.5 1,0.3 2-0.3 2,0.5 1-0.5 4,0.6 4-0.3 4,0.5 2-0.7 5,0.6 2-0.3 6,0.3" stroke="#2ca02c"/><path d="M291,571.4l1-1.6 1-3.5 1,0 1,0.6 2,4.3 4,1.9 2-0.7 3,0.2 1-1.1 1,0.8 1-0.4 2,1.1 4-0.5 3,0.5 1-0.9 2,1.2 1-0.5 1,0.2 1-0.7 2,0.6 3,0.1 1,0.5 1-0.6 3,0.4 1-0.5 3,0.3 1,0.5 4-0.9 1-2.2 3-26.1 1,1.7 2,18.9 1,5.7 1,2.4 1,0.5 4,0.2 1-0.4 1-1.5 1-6.1 1-24.2 1-48.4 2-160.6 1-14.5 1-54.5 1,10.3 1-30.6 1,46.4 1-65.1 1,20.1 2,23.7 1,32.5 1,2.4 2,38.2 1-24.9 1,14.3 1,58.4 1-23.3 2,43.4 1,0.9 1-25.7 1,25.1 1-3.1 1,22.6 2,10.7 1-3.3 1,24.5 1-12.9 2,24.1 1-3.3 1,19.3 1-17.9 1,16.6 1-7.3 2,19.4 1,1.1 1-6.3 1,6.7 1-1.7 2,16.7 1-2.2 1,4.5 1-5.4 2,9.2 1-9.1 1,3.3 1,0.8 2-5.4 1,0.9 2,10.9 1-8.4 1,5.1 1-0.7 1-2.9 2,7 1-0.5 2,4.5 1,0.9 1,4.1 1-0.4 1,7.2 1-0.6 1,5.6 2,1.6 1,3.2 1-3.4 1,3.3 1,1.3 1,0.1 1,3.2 1-4.4 1,5.7 1-0.5 2,1.4 1-3.2 2,3.8 1-0.6 1,2.5 1-1.3 1,2.3 1-1.4 1,0.7 1,2.1 1-1.7 1-0.1 1,2 2-0.3 1,1.5 1-2.1 2,0.3 2,3.2 2-2.1 1,0.6 2,3.5 1-3.4 1,1.3 1-0.3 1,0.7 3-0.2 2,1.4 1-0.7 1,0 2,1.2 1-1.4 2,1.7 1-1 1,2 1-0.5 1,0.5 1-1.2 2,1.1 1-0.2 1,0.7 1-0.2 1,0.5 1-1.1 1,2.2 1-1.5 2-0.1 1-0.9 1,0.8 2-0.3 1-1.6 2-6.6 1-6.5 3-26.4 3-35.5 1-6 1-0.3 1,0.9 2,9.9 4,50.8 2,11.7 1,0.2 1,1.5 1,0.1 1,1.1 1,3.2 4,6 1-0.4 1,0.6 3,0.4 1-1 2,0.8 2-0.4 2,0.9 2-0.8 1,0.6 4-0.8 1,0.9 1-0.6 1,1.4 1-1.3 1,0.3 4-1.9 1-2 1-5.4 2-21.2 2-35.5 1-7.1 1,0.2 1,8.4 4,54.7 1,5.2 1,2.5 4,2.6 2-0.7 1,0.7 1-0.9 2-5.9 2-27 1-22.2 1-7.5 1,5.4 2,38.9 1,11.8 1,3.3 3-10 1,0.2 3,10.8 1-0.4 1-2.1 4-42.3 1-0.4 3,34.5 1,7.2 2,2.3 3-5.9 4,9.2 1-0.2 1,0.4 1,1.4 5-2.3 1,1.2 1-0.2 1,0.9 1-1.4 2,0.9 2-1.4 1,1.1 1-0.4 2,0.1 1-0.5 2,0.8 3-0.3 1-3.2 1-0.2 2-13.8 2-8.3 4,22.5 2,2 3-2 4-0.9 1,1.8 2,0.2 2,1.5 1-0.4 1,0.2 1,1.6 1-2.1 1,0.1 1-0.7 2-6.5 1-6.1 2-3.8 1-0.1 3,14.4 1,1.7 1,1.2 2,0.8 1-1.4 1,1 1,0.1 1-1.5 1,1.2 1,0.2 1-1.4 1,2.9 2-4.4 1,1.3 2,0 1,0.9 1,0.1 2-0.8 1-1 2-0.3 2,2.1 1-0.2 2,0.7 1,1.7 1-2.5 2,0.5 3-0.9 2,0 1-1.8 1-3.6 1-6.3 2-4 1,2.3 1,7.3 2,5.8 1,0.5 1-1.2 1,1.9 1-0.4 2,0.7 1-0.4 1-0.5 1-1.7 1,2.1 1,0 1-2.3 1,0 1,2.1 1-1.1 1,0.4 1-0.6 1,1.3 2,0.9 2-1.3 1,1.7 1-1 2,0.7 1-1.2 3-1 1,1.5 1-0.1 3-2 1,0.7 2-4.1 2,3.4 4,3 1-0.2 1,0.8 1-1.5 2,1.6 1-2.9 1,1.7 1-0.6 1,0.8 1-1.2 1,0.4 1-0.6 2,1 2-0.5 1,0.9 1-0.9 1,1 1,0 1-1.4 1,0.9 1-0.8 1,2.4 1-1.4 1,2.1 1-3.1 1,1.5 1-0.2 2,0.9 1-1.1 2-0.4 1,0.4 1,1.6 1-1.2 1,0 2-2.4 1-2.2 1,0.1 1-0.9 2,2.6 1,2.8 1-0.9 1,0.1 1,0.9 2-1.1 2,1.6 2-2.4 2-5.8 1-5.3 1,0.6 1,2.4 3,10.1 2-3.4 3-16.2 1-3 1,2.9 1-0.6 3,17.1 1,2.5 1,0.4 1,1.9 3-3 1,1.6 2-6.1 1-9.4 1-4.7 1,1.8 2,15.6 1,2.4 1-0.6 1-1.6 1-3 2-17.3 1-5.9 1-3.1 1,0.5 3,24 3,6.9 2,0.1 1,1.1 2-0.9 2,1.1 1-1 1,0.8 1-0.2 1,1.4 1-1.2 1,0.3 1-0.8 1,0.4 1-0.2 3-1.2 1,1.1 3,0.2 2,1 1-0.4 3,0.4 1-1.5 1,0.8 3,0.3 2-1.2 1,1 3,0.7 1-1.2 1,0.4 1-0.8 1,1.3 1-0.7 1,0.6 3,0.1 1-0.6 1,0.6 3-0.8 2,1.3 2-1 1,0.4 2-0.2 1-0.7 1-3.6 3-22.5 1-1.7 1,3.7 2,19 1,4.2 2,2.3 1,0.2 1-1 1,0.4 2-2.4 1,0.3 2-1.7 1,0.7 1-1 3-11 1,0.2 1,1.3 1,6.1 2,3.5 1-0.6 1-1.8 1,2 3,3.7 3-1.6 1,0 3,1.5 1,1 1-0.1 1-0.7 1-1.8 1-3.5 3-20 1-3.3 1,0.7 1,2.3 3,21.5 1,3.5 1,1.8 2-0.9 1,0.5 1-0.3 2,0.7 1-1.2 2,0.6 3-1.2 2-6.5 3-13.7 3,15.5 3,6.4 1-0.5 1,0.7 1-0.2 1-0.6 2,0.8 1-0.6 1,0.2 1-1.3 1,1.3 2-5.1 2-8.6 1-1.9 2-15.5 1-11.6 2-38.5 1-7.9 1,0.3 1,14.4 3,60.5 2,11.1 1,1.3 1,0.4 2-1 2-5.4 2-3 1,1.4 1-3.8 3-19.9 1,0 3,20.6 2,8.8 2,2.3 1-0.1 1,0.6 1-1.4 1,2.2 1-0.6 1-1.9 1,1.6 1-1.5 1,1.3 1-0.4 2,0.8 1-2.1 2,1.7 1-1.1 2,1.2 3-3.7 1,2 1-1 2-0.2 2,2.1 2-0.9 1,1.3 1-0.8 1,0.4 3-0.4 2,1 3-0.7 1,0.4 1-1.4 1,1.2 1-0.7 1,0.9 2-1.1 1,1.7 1-1.3 2-0.1 2-3.4 1-3.8 5-48.7 1,0 1,5.7 4,39.9 1,5.4 1,2.7 1,0.6 1,1.8 1-0.4 1,0.4 2-0.8 1,0.8 2-2.2 2-2.9 2-7.4 3-7.4 2,2.8 2,8.6 1,1.4 2,5.5 1-0.5 1,0.7 1-0.3 1,1.1 1-1.1 1,0.7 1-0.7 1,0.4 1-0.7 1,0.2 1-1 1,1.1 2,0.5 1-1.4 1-0.2 1-2 1,0.3 3-13.4 3-9.7 3,8.9 3,14.7 1,0.1 1,0.8 1,2.1 1-0.1 2,0.7 1-0.7 1,0.6 1-1.7 1,0.4 1-1.4 1,1.7 1-1 1,1.6 1-0.9 2,0.7 1-1.9 2,1.1 1,0 1,0.9 2-1.1 1,0.5 4-15.2 1-9.9 1-3.6 1-9.2 1,2.4 1-1.2 2,14.5 1-1.7 4,16.6 1,2.3 2-6.9 1-9.3 3-47.9 2-11.9 4,60.8 1,9.3 2,10.6 1,1.2 3-3.6 1-4.2 1-0.6 1-5.7 1-0.5 3,7 1,4.7 1,1.4 1-0.4 1,0.3 2-5.5 2-10.3 2-18.8 2-23.6 3-55.1 1-5.2 1-13.4 1,9 1-1.4 3,46.7 1,9.3 1,22.7 2,20.2 1,1.2 1,2.8 2-10.6 3-22.1 2-7.5 1-0.5 1,7.1 1,1.3 2,19.7 3,21.3 2,9.6 1,2.1 1-0.1 2-1.7 1-2.4 2-11.8 1-1.7 1-7.2 1,1.6 2,7.1 1,7.9 2,6.8 1-0.4 1,1.3 1-0.2 1,2.6 2-0.6 1,2 2,2 1-2.4 3,0 1-0.9 2,1.9 1-1.2 1,1.6 1-0.8 1,1 1-2.1 1,0.7 1-0.7 1,0.2 1,2.2 1-1.7 2-0.2 1,1.5 2-1.5 1,1.6 2-1.7 1,1.3 4-0.9 3,1.2 1-0.8 1,1.1 1-2 1,1.5 1-0.5 2,0.4 1-0.8 1,1.7 2-1.7 1,1.4 2-1.2 2,1 1-0.2 2,1 3-1 2,1 1-1.2 2-0.4 2-1.1 1,0.3 1-1.8 2-5.4 5-25.4 1-1.7 1-3.3 1-0.3 1,5.4 1,0.5 4,23.4 3,7.8 2,2.1 2,0.7 1-0.3 2,0.4 2-0.9 1,2 1-1.6 2,0.6 2-0.5 1,0.7 1-2.6 1-0.3 2-5.3 3-13.7 1-2.2 2-2.4 2,8.6 2,5.9 2-1.2 2-3.6 1-3.1 1,0.8 1-1.2 1,1.9 1-2.2 1-0.6 1,0.8 2,3.6 3,12.5 1,2.7 1,1 3,0.3 1-0.3 3,0.8 2-0.5 1,0.9 1-0.4 1,0.5 2-1.1 2,0.2 1-1 1,0.9 2-0.4 1,0.9 1-2.8 1,0.4 1-2.7 2,1.5 4-1.5 1,1.5 1-2.2 2,0.4 1,1 1,0.2 1-2.7 2,3.2 1-0.2 1-1.6 1,2.1 1-0.1 1-1 2,0.8 1-1 1,2.1 1-2.2 1,1.8 2-4.7 1,3.9 1-2.9 1,2.8 1-3.4 1,0.4 4-14.4 1-0.8 1,3.6 1,1.2 3,10.9 3-0.9 1,1.6 2-5 1-7.3 2-26.1 1-7.8 1-2 2,25.9 2,16.3 1,4.2 1,0 1,3.5 1-1.2 1-0.1 1-1.7 1,2.4 1,0.3 1-1.1 1,0.4 1-0.5 2,1.4 1-3 1,2.1 1-2.6 2,3 1-1.5 1,0.8 1,0.1 1-2.3 1,0.1 2,3 1-1.9 1-0.4 1-0.3 1,2.1 1-1.7 1,0.8 1,0 2-1.8 3,2.5 1-2 1,2.9 1-0.4 1-2.4 1-0.4 1,0.6 2-0.6 1,1.9 1-2.6 1,1.4 1,3.6 2,0.9 1-2 1,2.6 2-1.9 1,0.7 2-2 2,0.7 1,1 2-0.3 2,1.3 1-1.6 1,2.3 1-1.9 1,1.4 2-2.4 1,1.7 2-1.4 1,0.9 1,0.1 1-1 1,0.4 1-0.4 4,1.5 1-1.7 1,0.1 1-1.2 1,1.7 1,0.6 1-2 2,1.4 2,0.4 1-0.4 1,1.4 1-1.8 1,0.8 1-0.7 1,2 1-1 1,1.4 1-0.2 2,1.2 3,0.6 1-0.4 3,2 4,0.7 5-0.4 7,0.6 5-0.4 2,0.6 1-0.5 1,0.6 4-0.6 2,0.5 9-0.2" stroke="#d62728"/><path d="M291,571.6l1-2.8 2-10.1 1-0.8 3,12.9 1,1.7 1,0.5 2-0.3 2,0.6 2-0.6 3,0.1 1,0.7 6-0.5 1,0.5 1-0.8 5,0.7 6-0.3 2,0.6 2-0.6 4,0.8 6-0.3 1-3.3 1-7.7 2-23.2 1,0.6 2,27.2 1,5.5 1,1.1 5,0.3 1-0.5 1-1.7 1-3.7 1-9.5 1-15.5 4-123.4 1-12.7 1,15.4 1-26.7 1,9.8 1-20.4 1,22 1-21.5 1,25.9 2,9.5 1,16.4 4,8.3 1,31.9 1-19.6 1,8.6 1,0.8 1,20 1-6.2 1,0.6 1,18 1-0.2 1-9.4 2,13.9 1,2.8 1,0.7 1,7.2 1,1 1,2.4 1,8.3 1-6.5 1,3.6 1-3.2 1,6.4 1-2 2,10.3 1-3.8 1,6.8 1-4.1 1-0.5 1,2.8 2,2.7 1-4 1-0.9 1,4.2 1-1.6 1-3.9 1-6.8 3-2 1-4.8 1,0.2 1-0.8 1-2.3 1,3.4 3-2.6 1,5.1 1,1.6 3,15.1 1,7.6 1,1.3 2,6.1 2,3.6 1,0 1-0.7 1,1.6 2,0.8 1-1.4 1,3.2 1-1.1 1,0 1,1.2 1-1.2 1,1.9 1-1.1 1,1.2 1-0.4 1,1 1-0.1 2,1 1-1.1 1,1.1 1-0.4 3,1.2 1-1.8 1,1.2 1-0.2 1,1.1 1-0.8 1,1.3 1-1.6 1,2.2 1-1.1 1,1.1 3-1.3 3,1.4 1-1.6 2,2.9 1-1.9 1-0.3 1,1.8 2-0.7 1-0.2 1,0.6 3-0.9 1,1.8 1-1.4 1,1.3 1,0 1-1 1,0.4 1-1 2,2.6 1-0.2 1-2 1,2.1 1-0.7 3-0.4 2-4.7 2-1.5 1-4 2-4 1-1.1 1-3.5 1,2.5 2,0.4 2,4.5 1,1 2,6.4 1-0.4 1,1.6 1-1.8 2-1 2,1.5 2,3.5 1-0.2 1,1.8 2-1 1,1.4 1-0.4 2,0.5 2-0.1 1-1.4 2,1.6 1-0.6 1,0.6 2-1.1 1,0.1 1,0.9 1-0.1 1-1.9 1,0.1 2-6 1-0.8 3,8.3 1-0.3 2-1.8 2-7.9 3-39.7 1-22.8 1-5.9 1,1.1 1,6.8 4,57.3 2,10.1 2,2.9 1-1.6 1,2 1,0.1 1-0.9 1-0.1 1,1.1 2-3.3 1,0.5 3-14 4,15 1-0.6 1,0.3 3-12.5 1,0.4 2,9.4 1,2.5 1-0.6 1-3.3 2-12.7 2-25 1-4.3 1,5.8 3,31.5 1,6.3 2,3.6 2-0.9 2,1.4 1-1.2 2,2.1 1-1.9 1-0.3 2,0.8 3-0.4 1,0.3 1-0.6 2,0 1,1.3 1-2 1,2.8 1-2.4 1-0.5 1,1.9 1-0.1 1-1.3 2,1.3 1-1.2 2,0.8 2-6.4 4-17.6 1,4.2 2,14.9 2,3.2 2,2.1 1-2.9 1,1.7 2,0.7 3-0.4 2,0.7 1-1.6 2,2.8 1-0.3 2-2.4 1-0.2 2-3 4-13.8 1,0.8 1,2.3 4,13.4 1,0.5 1,1.7 1-1.3 1,1.9 1-2.1 1,2.9 1-1.8 1,0.5 1-0.2 1-1.3 2,1 1-2.8 1,2.7 1-1.1 1,0.7 1-0.1 1-2 2,0.6 1,1.2 1-3.3 1,0.5 1,2.2 1-1.8 1,1.4 1,0.2 1,2.5 1-0.1 1-1.6 1-0.2 1,1.2 1-3 1,1.9 1,0.4 1-1.2 1,0.5 2-3.4 1-4.4 1-1.5 1,0.3 2,2.5 2,5.2 1,0.3 1-1.6 1,0.9 1-1.7 1,0.2 1,0.4 2,3.1 1,0.5 3-6.9 1,0.5 1-3.1 1,5.8 1,0.1 1,3.1 1,1.2 1-0.9 1,1.8 1-2.5 1-0.3 2,0.2 1,1.5 1-0.5 1,1.1 2-1.5 1,1.8 1-3.2 1-0.2 1,0.5 1-0.7 2,0.8 1-0.6 1,2.7 1-1.1 1,1.1 3-0.9 1,1.6 2-1.5 1,0.8 2-0.8 1-2 1,2.8 1-2 2,0.3 1,1.9 1-1.2 1,1.5 1-2.1 1,1.1 1-1.8 1,1 1-0.5 2-2.4 1-2.4 1-1 1-2.9 1,3.2 1,0 1,3.8 2-0.4 1-1.9 1-3.8 1-1 4,9.3 1-0.1 1,1.4 2-2.2 1,1.7 1-0.9 1,2.2 1,0.3 2-1.6 1,0.4 1-1.7 2,1.7 2-1.7 1-0.1 1-5 1-2.1 2,5.8 2,2.8 1,0.5 1-1.1 2-0.3 1-2 1-5.1 4-40.2 1-4.3 1,1.7 4,44.2 2,5.1 1,0.1 1,2 1,0.4 1,0 1-1.2 1,1.1 1-0.6 1,0.2 1-1.6 1,1.5 1,0.4 2-1.2 1,1.1 1,0.2 1-2.3 2-1.5 1-4 2,2.3 1,2.6 1-0.4 2,3.8 1-0.1 1-1.3 1,0.2 1,0.9 2,0.3 1-1.2 1,1.5 3-1.9 1,2.2 1-1.4 1,1.1 2-0.3 1-1.9 1,2.4 1-2.7 1-0.1 2,0.5 1,1.7 1,0.2 1-1.7 1,0.5 2-2.1 2,0.3 1-1.5 1,2.8 1,1.2 2,0.2 1-1.1 1,1.2 2-0.2 1,2.1 1-2.3 1,1.5 2-1.2 1,0 2,1.3 1-2.2 1,1.6 1,0.1 1-1.3 2,1.5 1,0.1 1-1.1 1,1.3 1-0.6 1,0.3 2-1.3 1,0.7 1-0.8 1,0.6 1-0.5 1-3.3 1,0.1 2-9.9 2,2.8 3,10.5 1-3.2 1-0.8 1,2 1-1 1,0.9 1,3 1-1 1,1.2 1-1.6 1,1.3 3-2 3-5 1,1.3 1-0.2 2,6.1 2-2.3 3-7.1 1-0.2 1,1.2 2,6.4 2,3.3 1-1.2 1,0.6 1-1.1 2,1.4 2-1.1 1,0.2 1-1.2 1,0.8 3,0 2,0.9 1-0.9 1,0.9 1-0.8 2,0.1 1,0.8 1-1.2 1,0.9 3,0.6 2-0.6 1,0.3 1-2.1 4-15.9 1-0.5 1,2.7 3,14.2 1-0.6 1,2 2-0.5 2,1.1 1-0.5 5,0.1 2-0.5 1-0.9 2-4.8 2-18.7 3-52.2 1-5 1,4 4,62.7 1,7.5 1,4.6 1,2.3 3,0.3 1,0.6 2-1 2-8.1 3-21.7 1-1.4 1,0.7 3,21.6 1,4.3 3,5.6 1-1.1 1,0.9 3,0.7 1-1.7 1,1.3 1-0.9 1,1.1 2,0.4 1-0.9 1-0.2 1-1.3 1,1.6 1-2.4 1-1.1 1-3.3 1-1.8 1-0.4 4,6.7 2,2.4 3-0.4 1,0.8 1-1.1 1,1.7 1-1.2 1,0.3 2-1.3 1,2.1 2-1.4 1,0.8 1-0.6 2,0.6 2-1 1,1.8 2-1.3 2,0.2 1-0.7 1-2.4 1,1 5-13.9 1-1.3 3,6.5 2,7.3 1,0 1,2.5 3,0.8 2-1.3 1,1.7 1-0.7 1,0.3 1-2.7 1-0.5 2-8.4 5-52.8 1-4.7 3,26.1 1,16.8 1,8.3 2,13.4 1,0.8 2,1.1 1-1 1,1 1-0.1 1,2.2 1-1.4 1,2 1-0.5 2,0.4 1-0.8 1,0.2 2-1.8 2-5.9 3-18.5 1-3.3 2,3.9 3,16.8 2,7 3,0.9 1,1.2 1-0.8 1,0.9 1-1.1 2,0.7 1-0.5 1,0.3 1-1.2 1,0.6 2-1.1 3-9.5 1-5.2 1-0.4 1,0 2,7.9 2,5.2 1,0.3 1-0.6 1,1.7 1-2.7 1,0.2 1-1.9 1-0.7 2-7.4 2-3.9 3,10.3 3,7.1 1-1.7 1,1.6 2-5.4 1-4.3 2-18.3 1-5.4 5,27.4 1,4.1 1,1.8 3-3 1-4.1 3-8.3 2-0.7 1,0.9 1,5.4 2,6.1 1,0.9 1,2.2 1-1 1,0.6 2-8.2 1-2 3-23.5 4-38.7 1-0.8 1,1.1 1,3.7 1,13.3 1,3.4 1,13.8 2,11.9 2,7.2 1-3.7 3-29.9 2-41.4 2-28.3 1-7.6 1-19.9 2,22 1-6.8 5,98.8 2,21.4 1,6.4 1,1.3 1,3.3 2-0.6 2-4.3 2-6.1 2-2.3 1,3 1-0.6 1,0 2,9 1,1.9 1-2.3 1-0.2 2-6.3 1-1.6 1,1.4 3,7.3 2-0.6 1,2.6 1-2.8 1,2.8 1-0.6 1-1.6 1,2.4 1-0.2 1-1.2 1,0 1-3.5 1-1 2,2.1 2,4 1,0.2 1-2.1 2,2.3 1-2.4 2,1.2 3-1.7 2,1.5 2-2.7 1,2.5 1,0.1 1-2.5 1,2.6 2-0.5 1,0.5 1-0.4 1,0.9 2-1.8 1,4.3 1-5.2 2,3.3 1-3.7 1,1.8 1-2.5 1,3.9 1-2.8 3,2 1-0.5 1,0.8 1-1.9 2-0.1 1,1.5 1-0.5 1-1 2-5.2 2-1.6 1-3.9 1,0.2 1,2.7 1-2.7 1-0.6 2-4.7 3,12.2 1-0.6 1,5.1 1,0.4 2-0.3 1,0.9 3,0.3 1-3 1,0.9 2-3.1 1,2.8 2-0.1 1,1.8 2-1.3 2,3.7 2-3.1 1,1.3 1-2.1 2-0.9 1-2.2 1,1.2 2-3 1,2.2 2-5 1-5.8 1-2.9 1-8.3 1-2.8 1,4.8 2,17.6 2,7.7 1-1.7 1-0.5 1,0.7 1-2.5 4,4.4 1-1.2 1,0.1 1,1 1-0.7 2,2 1-2.6 1,2.3 2-2.8 1,1.6 1,0.5 2-1.3 1-2.3 2,5.8 2-4.5 1,2.6 2-2 1,3 1-3.5 1,3.6 1-3.5 1,1 1,2.3 1,0.5 1-3.2 3,3 1-2.3 1,0.8 1-1 1,0.8 1-0.6 2,0.5 1-0.5 1,3.4 1-2.2 1,0.2 2-2.4 1,2.8 1-3.1 1,3.4 1-3.1 1,0.3 1,3.5 2,1.1 1-2 1,1.2 1-1.1 1,0 1-1 1-1.6 1-5.6 1,0.2 1-1.2 1,0.9 1,4.5 2,1.4 1,3.8 2,0.8 2-1.6 1,0.2 1-1.2 1-3.2 2-18 2-30.2 1,3.7 1,8.3 2,27 1,6.6 1,4.8 1,1.7 1-0.2 1,1.2 1-1.4 1,1.3 1,0.3 1-1.1 1,1.9 2-1.5 2,0.6 1-0.8 1,1.2 1-1.2 3,1.7 2-2.5 2,2.6 1-2 2-0.3 1,2.6 1-1.8 3,1.5 2-1.6 1-1.7 1,2.4 3-0.8 2,1.4 2-2.2 1,1.1 2,1.2 2,0 1-2.2 1,0.6 1,1.9 1-3.6 1,4.2 1-1.9 2,1.7 1-2.5 1-0.1 1-2.1 1-0.5 5,5.1 1-0.8 2,1.6 1-0.5 2,0.7 1-1.8 1-0.7 2,1.5 2-1.5 1,0.8 1-0.2 1,1.8 1-0.2 1-2.2 1,2.4 1-1.3 3,0.8 1-0.4 1,0.4 1,1.8 1-3 2,0.7 1,0.8 1-0.4 1,0.9 1-1 1,1.8 1-1.1 1,0.6 1-0.3 3,1.7 3,0.1 2,1.7 1-0.3 3,0.9 9,0.5 2-0.4 2,0.4 4-0.3 19,0.3 1,0.4 1-0.4" stroke="#9467bd"/><path d="M291,574.6l1-1 3-6.3 4,7.3 2,0.5 42-0.1 1-1.1 1-4.4 2-21 1-4.1 1,4.8 2,21.1 1,3.9 1,0.9 4,0 1-0.7 1-2.3 1-6.9 1-19.5 4-144 1-6.3 1-1.2 1-20.1 1,16.5 1-10.2 1,13.8 1-29.6 1-3.4 1,41.9 1,6.4 2-13.7 1,44.1 1-5.6 1,15.4 2,2.4 1,3.9 1,21.9 1-10.2 1,11.3 1,2.7 2,15 1-1.9 1-8 1,9.8 1-7.3 1,14.1 2,14.2 2,1.2 1,1.6 1,8.7 1-8.3 1,0.3 2,10.3 1,0 1,5.5 1-0.7 1,3.7 1,0.6 1,2 1-3.8 1,3.6 1-4.4 1,1.3 1-0.6 1-3.1 1-0.8 2-11.5 1,0.8 1-8.8 1-2.9 1-8.2 1,4.6 1-3.1 1,1 1,4.6 2,4.5 5,28.9 4,14 1,0 1,1.8 1,0.1 1,1.7 1,0.7 1-0.6 1,2.9 1-0.9 1,0.8 1-0.1 1-0.9 1,2.2 1,0.5 5-0.3 3,1.8 1-0.2 1,0.6 1-0.1 1-1 1,1.4 1-0.7 1,0.6 2-0.5 3,0.2 1,0.6 8,1.3 1-0.6 1,0.9 1-0.8 2,0.4 2-0.4 2,1.1 3-0.5 1,0.6 3,0.5 1-0.5 4-0.2 1,0.7 6-0.2 1-0.3 1-1.3 2-4.9 1-4.4 3-25.5 3-37.1 1-7 1-2.5 1,3.8 1,10.8 1,5.7 2,24.9 3,24.8 2,9.5 2,3.5 2,0.6 2-0.3 1-1.1 3-17.9 1-2.7 3,17.5 1,3.4 1,1.4 18,0.8 2-0.5 1-1 2-6.2 1-8.1 3-47 2-9.4 1,0.2 2,37.7 2,23.1 1,6.3 1,3.1 2,1.8 2,0.3 2-0.6 3,0.5 1-0.6 1-1.9 1-4.1 2-14.6 1-2.9 3,19.1 1,1.8 1-1.4 3-16.9 1,2.1 3,15.8 1,2.3 1-0.2 1-2.1 4-26.5 1-2.4 4,28 1,2.8 2,1.7 3,0.4 9-0.3 9,0.4 8-0.3 2-0.9 2-6 3-15.6 1,0.1 4,19 2,3 2,0.9 2-0.4 2,0.4 1-0.3 8,0.2 2-0.5 2-3.4 3-8.5 1-0.2 1-1 2,1.3 5,9.6 2,2.1 2,0.7 3,0.2 7-0.5 1-0.9 1-2.3 2-8.5 1-2.4 1,0.4 3,11.3 1,1.9 2,0.8 13,0.3 4-0.5 5,0.5 3-0.4 4-3.6 1,0.3 4,3.5 2,0.2 85,0.2 2-0.4 1-1.2 1-2.4 1-4.7 4-37.4 1-1.3 4,37.3 2,8.5 2,1.4 6,0.3 7-0.3 2-1.5 3-6 1-0.7 1,0.8 2,4 2,2.7 2,0.8 10,0.2 2-0.4 3-2.3 2-3.1 1-0.7 1,0.6 4,5.2 2,0.6 10-0.2 2-1.1 4-6.8 1,0.3 3,6 1,1.1 6,0.7 3-0.3 1,0.3 3-0.6 2-4.6 1-6.6 2-23.1 1-5.6 1-2.3 1,2.9 3,29.9 1,4.8 2,4.1 4,0.9 2-0.2 2-2.7 2-9.9 3-22.4 1,0.8 1,2.7 3,18.9 2,7.7 2,4 3,1 9-0.3 2-0.9 3-2.7 2,0.5 1-0.6 1-5.1 2-24.6 1-5.5 3,31.8 1,3.9 1,1.1 3,1.5 4,0.6 1-0.6 2-3.3 3-1.4 2,0.6 2,1.8 1,1.6 3,1.3 3-1.1 4-3.5 3,1.7 1-1.9 2-12.4 3-43.2 1-3.2 1-0.8 1,8.2 3,39.9 2,12.4 1,2.4 1,1 1,0 1,0.5 2-0.7 2-1.8 1-3.3 3-18.8 1-3.3 1,0.8 1,4.2 3,18.7 1,2.7 2,1.2 2,0 1,0.6 3-0.5 2,0.3 3-0.5 3-1.7 3,1.2 1-0.2 1-0.4 1-1.3 3-4.9 1-0.2 4,6.6 2,1.1 11,0.2 2,0.4 4-0.3 1-0.5 1,0.7 3-0.8 3-5.1 3-11.2 2-4.4 2,2.7 4,13.4 1,1.7 1,0.5 1-0.6 1-2.1 2-7.9 1-1 1-0.7 3,5.9 1-0.7 1-3.1 1-7.2 3-25.7 2-2.6 3,27.7 2,13 1,4.2 2,3 2,0.8 3,0 3-0.8 2,0.4 5-0.1 2-1.4 4-6.4 2-1.6 1,0.3 2-1.1 1,1.4 3,7.3 2,1.6 1,0.1 1-0.6 2-2.5 1-2.4 2-1.9 4,6.4 1,0.6 2,1 6-0.1 2-0.4 1-0.8 2-4.1 3-22.6 2-25.4 3-17 4,49.3 2,13 1,2.4 1-0.7 4-12.7 1-1.7 1,0.3 1,1.7 2,9.4 2,5.9 2,2.5 1,0 1-0.9 1-2.8 3-15.4 1-8 1,0.5 1,1.6 2,10.7 3,10.3 1,1.1 1-1.1 3-10.1 1-5.7 2-5 3-15.6 2-3.2 1,3.1 1-0.9 1,7.1 1,1.8 1,3.7 3,14.2 2,3.8 1-0.3 2-7.5 3-20.6 1-1.8 2-6.9 1,1.4 2,6.4 2,14.3 4,19.9 2,3.9 1,1.2 1,0.2 1-0.1 4-4.6 1-0.2 4,4.2 4,1.6 8,0.8 4-0.2 2-0.9 2-4.6 2-6.6 1-0.1 3,8.9 2,3.2 1,0.4 5-0.1 2-1 3-5.2 1-1.3 1-0.1 1,0.7 3,5.6 1,0.9 2,0.6 9-0.4 2,0.4 3-1.2 3-2.5 2-0.3 3,2.8 2,0.6 4-2.8 4-8.8 1-1.1 1-0.2 2,1.1 1,1.2 3,6.8 2,2.5 2,1.3 10,0.5 8-0.2 3-1.4 5-5.6 2,0.2 3,1.6 1-0.6 3-8.1 1-0.8 1,3.6 2,3.6 1-0.6 2-4.5 1-0.7 1-1.6 1,0.6 3,10.9 2,3.1 15,0.2 2-1.1 2-3.8 1-0.4 3,4.8 3,0.5 4,0 1-0.4 7,0.4 3-0.5 2,0.4 5,0.1 2-0.4 3,0.3 6-2.5 1,0.2 1,0.8 1-0.2 2,0.7 1,0.8 3,0 2-0.8 1-1.9 1-5.4 1-11.3 3-61.2 1-4.4 4,69.8 1,9.4 1,4.2 1,0.9 3,0.8 2,0 1-0.7 6,0.8 3-0.5 2,0.4 1-0.6 3,0 2,0.5 2-0.4 2,0.3 1-0.5 3,0.5 5-0.5 1,0.6 4-0.4 6,0.4 3-0.7 1,0.5 2-1.6 1-1.5 3-6.2 2,3.2 2,4.7 2,1.2 2-0.2 2,0.6 1-0.5 2,0.6 2-0.5 9,0.3 3-0.4 1,0.4 2-0.5 2,0.9 1-0.5 4-0.2 2,0.5 14,1 38,0.2" stroke="#8c564b"/><path d="M291,570.5l2-3.9 2-0.7 3,6.1 2,0.5 3-0.7 1,0.6 1-0.7 1,1 1-0.7 1,0.4 1-0.8 1,1 1-1 1,0.5 1-0.6 2,1.3 2-1 1,0.8 2-0.7 2,0.9 1-0.7 3,1 6-0.8 6,1.2 4-0.9 1,0.5 2-2.4 1-5.2 1-10 1-4.1 1,1.7 2,16 1,3.3 1,0.9 2-0.1 1-0.6 1-3.3 1-7 2-47.3 3-243.2 1,57.3 1-8.2 1-37.6 1,9.2 1-39.8 1,14.1 1-42.3 1,36.9 1,72.4 1-57.1 1,48.8 1-33.9 2,60.3 1-14.9 1-6.7 1,41.9 1-3.3 2,54.6 1-31 1,25.2 1-17.9 2,40.6 1-8.1 1,10.9 1-0.9 2,22.4 1-9.6 1,22 1-1.8 1,1.1 1,6.9 1-8 1,23.3 1-6.7 1-0.1 1,3.6 1-1.9 2,10.2 1,1.6 1,7.5 1-9.1 1,8.5 1-2.7 1,11.4 1-8.9 2-9.1 1,3.2 1-5.2 1,5.5 1-0.4 1-18.1 1,10.6 1-12.9 1,5.5 1,1.3 1-0.2 1,3.5 1-6.7 1-2.2 1,5.7 3,10.7 1,13.5 1-0.6 1,3.6 1,8.1 2,10.3 1,1.4 2,5.8 1-1.1 1,5.1 1-2.9 1,4.8 1-1.4 2,2.1 1,0.2 1-1.7 1,3.8 1,1 1,2.4 1-4 1,3.5 2-2.5 1,3.7 1-0.5 1,1.4 1-1.3 1,0 1,1.2 2,1 1-3.2 1,2.7 1,1.2 3,0.8 1-1.2 2,2.8 1-2.9 4,2.9 3-1.3 1,2.7 1-2.1 1,1.5 2-0.6 1,0.5 1-0.9 1,1.7 2-1.6 1,2.5 1-1.8 1,1.6 2-2 1,2.3 1-0.3 1,0.4 2-0.2 1,0.5 1-1.4 2,1.8 1-0.5 3,0.5 3-4.7 1-3 1-0.3 3-11.3 3-15.3 1-1.9 2,6.9 3,19.1 3,8.5 3,3 2-0.6 2,0.6 1-0.2 1-1.3 1,0.8 1,2 1,0.4 1-1.7 1,1.9 1-0.9 1,0 1-3 3-5.3 3,1.8 1-1 1-0.2 1-2.2 3,8.5 2-0.8 1-4.1 1-1.3 1-2.9 3,4.3 1,0.4 1-2.6 1-8 4-47.6 1-2.8 1,1 3,45.3 2,15.6 1,3.8 1,0.1 2,2.1 1,0.3 1-0.6 1,1.3 1-1.5 3,0.8 2-5.2 3-45.5 1-1.6 1,9.5 1,20.2 1,10.7 1,3.6 1-7.3 2-30.2 1-7.2 1,7.7 2,31.6 1,5.7 1-2.6 1-10.7 4-126.1 1,0.9 1,19.4 2,69.2 2,43.8 1,9 1,3.4 2,1.9 1-0.2 1,1.4 2-2 1,0.3 1-0.5 1,0.8 1-0.7 1,1 2-1.7 1,1.5 2,0.8 1-1.1 1,0.4 1-2.6 1-5.5 2-15.1 1,1.2 1,4.1 2,13.2 1,3.9 1,0.8 1-0.2 3-2.2 3-10.1 2-1.6 2,4.6 2,7.7 2,1.8 1-0.8 1,0.8 2-1 1,0.5 1-0.9 1,1.8 1-1.1 1,0.4 1-1.4 1,2.3 2-1.2 2,1.2 2-0.9 3-2.8 2-5 2-0.1 1,1.9 1,0.4 2,2.5 1,2.6 1,0.2 1-0.6 1,0.7 1-1.2 1,0.9 2-0.4 1,1.7 2-1.9 1,0.9 1-0.9 1,1.4 3,0.2 2-2.6 1-3 2-11.6 1-11.5 1-3.1 2,10.9 1,9.7 2,6.1 1,1.4 1,0.3 1-0.4 1-2.2 1-0.3 1-1.6 1,0.9 1-1.2 2,3.8 3,3.2 2-1.1 1,1.9 1-1.5 2,1 1-1.1 1,1.1 1-0.6 1,0.5 1-1 1,0.9 1-0.2 2-1 1,0 2-1.4 2,1 1-0.3 1,1.9 1,0.1 3-0.9 1,0.8 2-0.5 1,0.9 1-0.8 2-0.7 1,1 1-1.1 1,0 3-15.2 1-0.3 1-1.5 2,8.9 2,2.5 1-1.2 2,4.5 3,2.9 2,1.1 1-1.9 1,0.6 1-0.8 3-6.8 2,0.2 4,7.5 4-0.5 2,1.1 1-1.3 2,0.2 2-0.7 1,1.9 1-0.5 1-1.4 2-0.1 1,0.5 1-0.2 1,0.8 1-0.7 1,0.9 1-0.3 1,0.9 1-1.2 1,1.5 1-1.9 1,0.3 2-2.5 2,0.3 1-2.8 3,3 2,0.7 1,1.5 2-0.6 1,1.5 1-1.6 1,0.7 1-0.5 1,0.7 2-1 1,0.1 2-1.2 3-6.7 2,0.4 1,1.3 2,5.4 2,0.3 1,1.7 1-2 1,2.6 1-1.2 1,1.3 1-2 1-0.9 2,2.7 1-1.7 1,0.9 2-0.8 1,0.8 2-3.8 3-16.8 1-3.1 1,2.3 1,4.7 2,12.4 2,3.2 1-2.6 1,1.7 2,0.1 1-0.8 1,1.4 1-0.1 1,0.6 1-1.4 1,1.6 1,0.1 1-0.8 1,0.8 1-1.9 2-2.1 3-12.3 1-1.6 1,0.1 3,14 1,0.7 1,2.3 1-1.8 1,2.5 2,0.6 1-2.5 1,1.7 1,0.4 1-0.3 1,1 1-0.2 1-1.7 1,0.9 2-0.9 1,0.8 1-0.5 1,2.2 1-2.7 1,2.3 1-1 1,0.8 1-2.2 1,0.7 1-0.2 1-4.7 3-8 1,1.9 3,10.7 3-0.6 1,2.1 2-3 3-26.1 1-1.6 1,0 3,27.2 1,0.1 1,2 1-1.5 1,1 2,0.1 1,0.8 3-2.3 1-4.1 2-16.8 1-17.7 2-16.3 1,7.1 3,37.9 1,8.3 1,3 1,0.2 1,1.5 1-1.2 1,0.8 1-1 1-0.2 1,0.9 1-0.7 1,1.2 1-1 1,0 1,1.1 1-1.5 1,0.4 1-1.6 1,1.2 3-9.8 2,0.1 1,6 2,3.4 1,0.6 1-0.2 2,1.6 1-3 2,1.7 1-0.8 1,1.7 1-1 1,2.7 1-2.7 3,1.4 1-0.4 1,0.1 1-0.6 2,0.3 1-0.8 2-0.2 2,0.8 1,1.3 3-0.9 1,0.6 1-2.9 2-2.4 1,0.2 2,3 1-0.4 1,0.3 1-2.3 1-5.8 2-29.1 3-88.3 1-18.4 1,0.4 1,16.8 3,82.6 1,22.7 1,8.7 1,3.8 2-2.6 1-8.8 1-0.2 1-2.5 1,2.5 4,16.3 1,1.7 3,0.9 1-0.4 2,4.1 1-0.2 2,0.9 1-1.4 1-0.2 1,2 1-1.5 1,1 1,0.2 2-1.4 1,1.1 1-0.4 1,0.9 1-1.5 1,0.8 1-1.5 2,2.3 1-0.6 1,0.2 1-1.4 1-0.4 1,0.7 1-0.6 1-1.8 1,0.5 1-0.4 1,2.9 1,0.6 1-0.6 2,1.4 1-1.3 1,0.5 1-1 1,1.1 1-0.9 1,0.4 1-0.6 1,0.8 1-0.2 1,1.3 1-1.2 1,0.1 1-1.2 1,1.8 1-1.3 1,0.8 2,0.4 1-0.8 1,0.8 1-0.5 1-1.6 1,0.6 2-8 3-19.7 1-2.1 1,3.1 1,1.2 4,24 4,3.7 1-0.1 1-1 2,0.7 2-0.3 3-6 5-36.4 1-4.2 2,7.2 3,26.2 3,11.9 1-0.4 1,2.3 4-0.3 2-0.8 1,0.7 2-0.2 1,0.6 2-0.6 1-1.5 1-2.6 2-9.8 3-22.1 1-3.4 1-1.6 1,4 2,16.9 2,11.8 1,4.9 2,3.7 3,0.3 1-0.7 1,0.5 1,1.4 1-1.9 2-0.6 1,1.7 2,0.2 1,0.9 2-1.8 2,0.7 2-0.3 1,0.7 1-0.9 1,0.2 1-0.7 1,1 1-0.7 1,0 1-2.4 1-4.8 2-17.5 2-7.2 1-0.2 3,9.1 3,14.4 1,2.2 1,0 1-2.4 1-6.1 3-38.4 2-14 1,4.8 4,48.2 1,6.6 2,6.9 2,0.8 1-2.2 1-0.5 2-9.5 2-4.2 4,13.1 1,1.7 1-0.2 1,0.5 2-3.6 2-10.7 3-41.4 3-61.6 1-2.2 1-5.2 1,3.7 5,76.3 1,10.2 1,5.1 1,1.4 1-6.1 2-21.6 3-56.2 2-23.7 1-5.9 2,17.8 5,88.6 3,27.2 2,5.1 1,0.3 1-1.1 3-9.5 1-5.6 1-0.1 1-2.3 1,1.4 1,3 2,10.2 2,4.3 2,3.3 2-0.3 1,1.6 1-1.7 1,1.9 1-1.2 1,0.2 1-0.6 1,0.7 2-0.5 1,0.8 1-0.9 1,0.4 6,0.3 1-0.9 2,1.2 4-0.8 1,1.3 1-2.6 1,2.2 4-1.7 1,1.4 1-1.2 1,1 3-1.3 2,1.3 1-0.4 1,0.8 3-0.3 1-1.1 2,0.6 2-0.8 1,1.3 1-1.7 2,1.4 2-0.4 3,0.9 1-1.6 1-0.6 1,1.6 1,0.6 1-0.4 1-1.1 1,0.3 1-1.5 1,0 1-3.6 1,0.7 6-16 1,5.1 1-1.7 1,4.2 5,10.6 1-1.1 3,3.7 1-1.7 1,0.6 1-0.9 2,1.9 1-0.6 1,1.3 1-2.3 3,0.9 1-1.1 1,0.2 1,1 1-1.2 1,1.5 1-1.8 1,0.8 1-1 1,0.1 2-2.2 1-2.3 1-0.1 1-2.1 1,0 1,1.2 1-1.2 2-5.4 3-17.8 1-0.8 2,19.1 2,8.8 1-1.2 3-10.5 2,1.9 3,12.9 1-1.1 2,2.3 1-0.5 1,1.6 1-2.4 1,0.5 1-0.8 1,1.8 1-1.2 3,0.3 1-0.7 1,1.3 1-0.9 1,0.2 2-0.8 1,1.1 2-0.2 2,0.5 2-2.7 1,2 1,0.5 2-1.3 2,1.4 1-1 1,0.8 2-0.7 2,0.2 1-1 1,0.9 1-0.3 1,0.4 1-1.5 1,1.5 1-1.4 1,1 1-0.8 1,1.2 1-0.1 1-1.1 2,1.1 2-1.5 1,1.5 1-1.5 1-4.7 1-1.8 2-7.8 1-2.1 2,5.5 1,7.4 1,2.4 1-0.1 1,1.4 1-0.5 1,1.3 2-0.2 1-0.7 2-15.1 3-61 1-5.4 4,71.2 1,6.5 1,2.8 3,2.4 1-3.7 1,2.3 3,1.5 1-2.5 1,1.8 1-1.4 1,2.5 2-3.2 1,1.7 1,0.2 1-1.4 1,2.8 1-3.1 2,1.1 1-0.8 1,2.7 1-1.6 1,0.4 1-1.6 1-0.7 3,3.4 1-1.7 1,0.7 1-3 1,0.5 1,2.7 1-0.3 1,0.7 2-3.2 1,2.5 1-2.2 2,2.9 1-1.7 1,1.5 1-0.6 2-2.4 1,1.2 1-0.6 4,1.1 1-0.5 1,0.4 1-0.9 1-3 3,1.5 1,1.9 1,0.7 1-0.7 1,1.3 1-1.4 1,0.1 1-0.4 1,2.8 1-3.6 1,1.7 2,0.5 1-0.4 1,0.5 1-1.2 1,0.2 2,2.1 1-0.9 1-2 1,0.9 1,0.1 1-0.7 1,1 2-1.6 1,2.5 1-1.4 3,1.2 1-0.7 2,1.2 3-0.6 2,3.5 1-2.2 1,1.4 1,0 2,1.7 3,0.1 2,1.7 3-0.2 3,0.7 3-0.6 1,0.7 2-0.4 3,0.7 3-0.8 2,1 1-0.6 3-0.2 1,0.5 3-0.4 1,0.5 1-0.4 6,0.5 3-0.5" stroke="#e377c2"/><path d="M291,572.3l1-1.9 3-13.8 1,2.2 3,13.5 1,0.9 3,0.4 3-0.5 3,0.6 5-0.8 2,0.6 1-0.5 6,0.4 3-0.3 3,0.5 1-0.4 2,0.4 3-0.3 1,0.5 1-0.3 1,0.4 1-0.6 1,0.6 3-0.1 1-0.8 1-3.6 3-30.4 1,4.9 2,24.5 1,3.9 1,1.3 1-0.2 1-1.3 1-4.6 1-12.5 1-34 3-170.6 1-20.7 1-72.7 1-3.2 1-21.9 1,2.1 1,7.9 1-0.8 1,38.5 1-20.8 1,6.7 2,39.8 1,7 1,15.7 1-16.4 1,34.7 2,32.4 1-8.4 1,17.3 1,37.9 1-2.7 1-7.7 1,4.5 1,18.8 1-23.5 1,9.1 1,1 1,25.3 1-5.3 1-2.3 1,11 1,1.1 3,17.9 1,3.3 1,7.7 2,0.3 2,3.6 2,16.1 1-4.6 1,9.4 1,1.2 1-4.3 1,10.3 2-6.5 1-0.4 1,7.5 1-7.4 1,7.5 1-1.9 1,4 1-8.4 1,3.6 1-1.1 1,2 2-9.4 1,2.2 1-1 1,6.1 1,0.2 1-3.4 1-0.4 1,0.2 1,8.9 1,3.4 1,0.4 2,14 1,1.8 1,4.2 1-2.1 1,5.3 1-1.9 1,4.7 1-2.7 2,2 1,3.7 1-1.1 1,1.9 1,0.4 2-1.7 1,2.4 1,0.5 1,3.7 1-4.2 1,2.8 2-1.9 1,3.3 1-2.3 1,3.5 1-2 2,1.9 1,0.2 1-2.3 1,2.2 2-0.5 1-1.3 1,2.8 2,0.2 2-2.2 1,4.1 1-2.9 1,2.1 1-1.2 1,1.7 1-0.7 1,0.6 2-1.4 2,3.1 1-1.3 1-0.5 1,0.2 1,0.3 1,2.7 1,0.4 1-0.3 1-1.9 2-0.7 1,0.1 1,1.6 1-0.5 1,1.2 1-3.3 1,2.9 1,0.6 4-2.5 1,2.3 1-1.7 2-0.6 3-13 3-30 1-17.3 3-25.6 1-4.1 1,3.5 1,9.4 6,63.9 2,10 1,3.1 1,0.7 1,4.9 1-3.3 1,2 1,0.2 2-1 1,1.1 1-1.4 1,1.6 1-1 2,1.1 1-1.2 1-0.2 2,1.5 2-1.3 1,1.7 1-1.3 1,0.9 1-1.8 1,1.4 1,0.2 1-0.7 2-0.3 1-1.4 2,2 1-0.7 1,1.5 2-5.8 2-17.7 1-1.3 3,7.4 1-0.1 1,2.2 4,12.1 1-2.2 1-0.9 2-9.9 1-1.9 1-3.8 1-0.8 4,16.8 2-0.2 2-16 2-26.5 3,36.7 1,5.5 1,2.7 1-8.9 2-34.7 1-10.7 1-0.9 2,40.7 1,11.1 1,5 1,1.3 2-5.9 2-12.5 1-3.2 1,1.1 3,18.2 1,2.1 1-0.6 1,2.2 2-0.4 1,1.1 1-2 1,0.9 2,0.2 1-1.8 1,2.1 1-2 1,0.2 1,2.7 1-2.6 1,0 1,1.6 1-0.7 1,0.6 1-0.1 1-1.5 1,1.9 1,0.3 1-0.3 1-1.1 2,0.9 1-0.2 1,0.6 2-1.3 1,0.6 2-2.7 2-4.7 2-16.2 1-1.5 2,6.2 2,13.3 2,4.7 2,1 2-1 1,0.6 3-0.4 1,1.4 1-0.7 1,0.3 1,2.1 1-3.1 1,1.9 1-0.6 2-3 1-0.1 1-2.2 1-6 1-2.8 1-10.3 1-1.1 1-3.6 2,7.5 2,13.5 2,5.8 1,0.3 1,1.6 2-3.1 1,0 1-0.8 2,2.7 2,0.6 1-0.5 1,0.2 1,1.7 1-1 1,1 1-2.9 1,0.3 1-1.9 2-12.1 1-10.5 1-3.8 1,1.6 3,24 1,3.6 1,0 1,0.7 1,1.8 2-1.9 1,0.3 1-0.4 2-1.8 1,2.7 1-2.4 1,1.5 2,1.4 1-1 1,1.6 2-2.7 2-0.3 1-1.6 1,1.3 1-0.3 1,1.1 3,1.6 2-3.3 2-10.1 1-7.8 2-7.7 1-1.9 2-20.3 1,4.5 3,42 1,2.7 2,1.3 1,0.1 3-5.7 1-4 1-0.9 2,6 1,1.9 1,0.4 1,2.3 3,0.1 1-0.4 2,1.2 1-0.1 1-2.1 1,2.5 2-1.8 1,1.5 3-0.6 1,0.8 1-1 1,0.4 1,1.5 1-1.3 1,1 1,0 2-3.1 1-0.4 1-1.4 1-3.7 2-4.5 2,1.6 1,0 1,4.7 1,0.5 1,3.9 2,2.1 2,0.3 1-1 1,0.7 1-1.4 1,0.6 1-0.2 1,0.9 1-1.5 1,0.2 1,1.1 2-1 1,0.7 2,0.1 1,1.2 1-1 2,1.3 1-1.8 1,1.7 2-2 3-7.7 1-1.5 1-0.3 1,0.6 1,2.9 1-0.2 2,2 1-3.7 1-7.7 3-34.1 1-2 2,16.1 2,23.8 1,7 1,1.9 1,3.9 1-0.7 1,0.3 1,1.4 1-1.1 1-0.2 1,1 1-0.9 1,1.1 1-0.1 1-1.4 1,0 1,1.8 1,0.4 2-0.4 4-4.6 1-0.1 1,0.5 3,3.3 1-0.9 2,1.4 1-0.8 1,0.7 2,0.1 1-1.1 1,0.8 3-0.1 1,0.7 2-3.8 1-5.3 3-40.9 1-8.6 1,3.8 4,48.5 1,4.1 2,0.9 1,1.8 1-1 2,1 1-0.9 1,0.7 1-0.9 2-0.5 2,1.6 1-1.1 1-0.3 1,1.1 2-0.2 1-1 1,0.5 1-0.5 3,0.9 1,0.9 3-1.7 1,1.5 2,0.1 1-1.6 1,1 3-0.5 1,1.4 1,0.1 2-3.8 2-8.1 1-1.4 1,0 3,7.4 3,3.4 3,2.8 1-1.6 1,1.4 1,0 1-2.5 1,0.9 1-3 2-14.1 2-21 1-0.1 2,12.2 1,13.5 2,10.7 2,3 1,0.1 1-1.2 1,1.5 3-1.5 1,0.3 1,1.2 2-1.2 1,0.4 2-0.3 1-0.4 1-1.3 1,0.7 1-0.9 1-0.1 1,1.4 5,1.3 1,0.8 1-1.6 1,0.9 1-0.8 1,1 1-1.2 2,1.3 2-1.9 2,0.9 2-1 1,0.3 2-3.1 1-0.1 1,0.5 2,2.4 1-0.6 1,1.6 2,1 1-1.8 1,0.4 1,1.6 1,0 1-1.5 3,1 1-3.3 1-2 1-0.8 1,0.5 2,3.1 1-1 2-6.5 2-9.3 1-1.6 1,1.7 3,14.4 2,3.3 1-0.5 1,0.5 1,1.5 2-0.6 3-1.6 3-11.9 1-7.3 2-4.2 3,11.7 1,7.1 3,6 3,0.2 1-1 3,1.3 2-1.1 1,1.1 1-0.1 1-1.7 2-0.8 2-12.2 1-3.5 1,0 1,7.1 2,6.9 1,1.5 2,0.1 3,1.2 1,1.1 2-0.5 1,1 2-0.4 3,0.6 1-1.4 4,0.6 2-0.8 1,1 2,0 1-2 3,2.2 1-1.8 2-2.1 1-4.3 2-15.5 3-31.3 1-3.6 1,5.5 4,42.7 1,5.4 2,5.1 1-1.7 1-0.3 2,1.2 1-0.8 2,0.9 1-2 2-1.7 1-2.4 2-10.9 5-35.7 1,3.9 3,27 2,13.6 1,3.1 2,3.6 2-0.5 1,1.7 1,0.2 2-0.8 3,0.2 1-1.3 1,0.9 1-0.7 2-5.3 1-5.5 2-17.5 1-3.2 2-0.3 1,2.4 1,4.8 2,13.1 2,8.8 1,1.9 1-0.2 1,1.4 1,0.2 1,1.2 1-1.7 1,0.4 1-1.6 1,3 1-1.9 2-0.2 1-1 2,2 1-1.5 1,0.5 2,2 2-2.9 1,1.5 2-0.3 1,1.5 1-2.1 2,1.4 2-4.5 3-22 3-30.9 1-1.8 1,5 3,35.2 2,7.5 1,1.4 2-14.6 4-44.2 1,2.7 1,5.7 4,44.6 1,7.3 1,3.3 1,1.6 1-2.4 1,1.7 2-4.4 1,1.9 1-1.3 1,2.6 1-1 1-0.2 1,2.3 1,0.8 1-0.6 1,2 2-1.2 2-3.8 4-14.6 2-12.2 1-0.7 1-3.7 2,3.1 2,7.3 1,7.4 3,10.3 1,1 2-1.9 2-13.9 4-68.6 1-29.5 1-8.1 1,4.7 1-2.1 7,108.2 1,7.4 2,8.3 1,1.3 3-7.8 1-10.3 3-14.6 2,7.3 1,10.4 2,11.2 3,4.8 1-0.8 1,1.4 1,0.1 1,1.5 1,0.2 2-2.1 2,0.8 1-0.3 1,2.1 1-2.8 1,1.4 2-2.8 2,1.4 1-0.5 2,1.6 2-3.2 4,2.6 2-2.1 1,2.1 1,0.8 2-1.9 1,0.8 2-1.7 2,0.3 1-4.9 2-6.1 1,0.5 1-0.7 1,3.2 1,6.5 2,3 1-1.5 1,2 1,0.8 3-2.6 1,1.8 1-0.9 1,2 2-2.7 1,1.9 1-1.8 1-0.5 1,1 1-0.5 2,1.5 1,0.1 2-0.3 1-1.4 1,1.7 3-7.2 6-29.3 1-2.2 1-0.2 2,8.1 4,21.6 3,8 1,0.5 3,0 1-1.3 1,0.7 1-1 1-0.1 4-7.8 1,0.6 2,3.3 3,1.4 1-1.2 1-2.9 4-17 1-0.6 1-2.8 2,7.2 1,1.2 2,10.1 3-4.4 1-0.4 1,1.6 2,6.5 1,5.4 4-5.1 1,1.4 1-0.6 1,4.3 1,0.5 1,1.3 1-0.4 1,1.1 1-1.5 1,2.1 2,1 1-0.6 1-2.2 1,1.2 1-1.4 1,2.4 2-0.8 1-1.3 1,1.2 2-1.3 1,1.1 2-1 3,0.7 1-1.1 1,1.6 2-1.2 3,1.2 3-1.2 1,1.3 2-2 1,1.2 1-0.7 1,1 1-0.5 2,0.9 1-0.1 1-1 3,0.6 2-3 1,2.7 1,0.4 1-1.6 1,1.2 1-0.7 1,1.3 1-2.3 1-0.9 1-2.7 1-0.3 1-2.6 2,3.2 1,0.1 1,2.4 1,0.2 1,1.6 1,0 2,1.9 2-3.1 1-0.6 1-5.2 4-52.3 1-8.4 2,20.8 2,30.7 2,12.7 2,4 1,0.5 1-0.7 1,1.6 1-1.7 1,0.7 2-0.4 1,1.6 1,0.1 2-2.3 1,0.5 1-0.5 2,2.1 1,1.9 1-3.9 1,0.9 2-0.3 1,0.7 2,0.4 1,1 2-2.4 1,0.8 1,2 1-2.8 1,0.1 1,1.7 1-1.7 1,1.1 2-0.3 2,1.8 3-2 1-1.4 1,1.4 1-0.4 1,1.9 1,0.5 1-4.1 1,4 2-2.2 1,1 1-1 2-4 3-16.9 1,2.3 3,16.1 1,2.3 1,0.6 1,1.6 2-1.4 1,1.4 1-1.9 1,1.5 1,0.5 1-1.9 2,0.3 1,1.6 3-0.8 1,0.1 1,1.1 1-1.7 1,1.1 1-0.9 1,0.4 1-0.6 2,1.1 1-0.9 1,0.7 1-1 4,2 1-1.1 2,1.2 1-0.9 1,1.5 1-0.5 1,1.4 2,0.6 1-0.5 4,2 3,0.6 1-0.3 1,0.5 2-0.4 5,0.5 3-0.4 2,0.3 24,0.4" stroke="#7f7f7f"/><path d="M291,573.6l1-1.6 2-9.4 1-2.2 3,12.5 1,1.1 7,0.6 1-0.4 2,0.4 34,0 1-0.9 1-3.1 2-10.4 1,1.9 2,11 1,1.5 3,0.4 2-0.6 1-0.9 1-3.6 1-7.6 1-15.3 3-83.2 1-58.9 1-4.2 1,14.4 1-29.1 1-2.9 1,5.4 1-29.9 1,41.3 1,11.6 1-24.5 1,5.7 1,15.2 1,0.2 1,8.5 1,26.8 1-4.1 1,3.8 1,9 1,0.9 1,2.1 1,23.5 1-24.5 2,14.9 1,3.1 1,12.4 1-5 1,13 1-1.6 1,10.3 1-1.8 1,7.9 1,2.8 1-0.5 1-2.7 1,3.4 1-6.8 1,1.7 1,14.8 1,1.9 2,7.1 1-2.7 1,4.6 2-3.8 1,8 1-3.3 2,0.3 1-2.7 1,2.3 1-0.5 1,1 1-1 1-0.2 2-9.2 1-0.7 1-0.1 1,0.9 1-1.8 2,2.2 1,4.5 1-6 1,7.1 1-3.5 1,5.1 2,4.8 2,13.2 1,4 1,0.2 1-2 2,7 1-0.8 1,1.9 1-0.1 1,2.3 1-0.2 1,1.3 1-2.4 1,0.9 1,2.3 1,0.1 1-1.1 1,1.7 1-0.3 1,0.5 1-1.2 1,1.7 1,0 1,1.1 2-0.4 2,2 1-1.7 2,0 1,1.5 2-0.1 1-0.8 1,1.6 1-1.5 1,1.7 1-0.9 2,1.4 1-0.1 1-1.6 1,0.1 2,1.8 2-1.2 1,0.3 1,1.9 1,0.3 2-1.4 1,0.7 1-0.3 1,0.4 1-0.7 2,0.8 2-0.7 2,1.3 1-0.5 1,0.5 1-0.8 1,0.9 1-0.3 1,0.5 2-0.7 1,1.4 1-1 1,0.4 1-1.2 1,0.2 3-5.4 3-16 3-20.1 2-0.5 3,10.5 1,9.2 3,15.9 2,5.3 3,2.5 2,0.9 1-0.6 2,0.7 2-0.5 1,0.8 1-0.5 1,0.6 1-0.8 2,0.3 1-0.5 1,0.8 1-0.3 1-1 2,1.2 2-0.4 1,0.5 2-0.8 1,0.9 2-0.6 1,0.7 3-5.8 1-0.9 2,1.4 1-0.7 2-15 3-42.3 2-2.3 1,8.5 2,30.3 2,19.1 2,6.3 2,1.7 2-0.7 5,0.9 2-1.6 1-3.9 3-20.7 2,5.8 1,6.7 1,2.5 1-3.2 1-8.7 2-27.6 1-0.4 3,40.2 2,9.3 1,0.8 1-2.2 2-13.1 2-8 1,2.2 3,18.1 2,4.1 3,0.3 1-0.6 1,0.7 3-0.6 2,0.4 1-0.2 1-1 3,0.3 1-0.4 3,1.9 1-0.6 1,0.5 1-0.4 1,0.6 1,0 1-0.7 1,0.8 2-0.9 3,0.4 3-3.1 2-6.2 2-0.7 3,7.5 2,2.3 1,0.5 2-0.2 2,0.7 1-0.6 1,0.3 1-0.7 1,0.5 3-0.3 2,0.7 2-0.7 3,0.5 1-1.5 2-1.1 2-2.2 3,2 2,2.4 2,0.6 6-0.4 1,0.4 5-0.3 3,0.2 2-1.9 2-9.2 1-7.7 1-3.2 1,3 2,13.6 1,3.7 2,2 1-0.4 1,0.5 1-0.3 1,0.7 1-1.2 3,1.3 1-0.8 2-3.1 2-6.7 1,1 2,6.7 1,1.7 2,0.8 1-0.4 2,0.3 1-0.7 1,0.9 1-0.7 1,0.4 1-0.4 1-1.1 1,0.2 1-0.8 2,1 1-0.2 1,1.1 1-0.4 2,0.6 4-0.2 2-2.1 5,1.7 3-4.1 2,0.5 2,3.2 3,1 1-0.6 1,0.9 5-0.7 2,0.5 1-0.5 2,0.6 2-0.5 5-0.1 1,0.4 2-0.5 8,0 2-0.9 1-2.4 2-14.7 1-2.1 2,14.1 1,3.5 1,1.6 1,0.6 1-1.2 2,1.4 3,0.3 1-0.4 1,0.6 2-1.1 2,0.8 1-0.6 1,0.5 3-0.4 3,0.4 1-0.6 5-0.1 5-5.9 2,1.4 3,4.6 1-0.5 2,0.7 1-0.4 4,0.7 3-0.7 1,0.5 1-0.7 1,0.6 1-0.6 3,0 1-1.3 1-0.3 1-3 2-0.9 2,1.6 2,3.1 2,1.4 1-1 1,0.8 3-0.9 2,0.3 1-0.6 2,0.9 2-0.2 1,1 1-1.9 1,0.3 2-1.3 1,0.2 1-1.1 1,1.3 5,0.6 1,1.6 2-0.8 1,0.6 2-0.8 2,0.4 1-0.5 1,0.7 1-1.2 1-2.9 3-27 1,0.8 2,20.7 2,5.2 1-0.8 2,0.9 1,0.7 1,2.4 2,0.1 1,0.7 2-0.4 3,1 2-0.8 1,0.3 1-0.9 1,0.6 4-3.7 1,1.7 3,2.4 2-0.5 3,0.3 1,0.6 2-0.7 2-2.6 2-9.6 2-16.2 1-4.7 1,3.7 4,26.2 2,3.1 2-0.2 1,0.9 3-0.8 2,0.7 2-0.5 2,1 2-0.8 3,0.8 1-0.8 3,0 1,0.8 1-1.4 1,1.4 2-1.3 1,0.7 4,0.6 1-1.3 1,1.3 2-0.9 2,0.6 2-1.2 1-1.3 2-5.1 2-7.3 1,0.9 1,2.2 1,4.7 2,5.6 2,0.4 2-2.1 2-3.3 5,6.2 3,0.1 2-3.3 1-6.8 2-27.8 2-49.7 1-11.7 1-0.6 1,3.8 4,81.5 2,11.9 1,2 2,1.5 5-1.9 2-2.4 1-0.4 1,0.4 2-0.6 1,2.3 1,1 3,1.7 4,0.1 4-0.7 2,0.9 3-1.3 3-3.7 2-1.1 2,1.4 2,2.2 4,2 3,0.6 1-0.5 4,0.1 1,0.8 2-0.5 3,0.2 1-0.6 1,1 3-0.6 2,0.1 6-6 2,2.5 1-0.1 3-2.9 2,0.3 5,5.4 2-1.8 1-2.2 2-10.2 2-4.3 3,11.1 1,2.2 1-1.8 3-14.1 3-20.6 1-3.1 2,3.5 3,29.7 1,5.2 1,4 2,2.7 1-0.3 3,0.6 2-0.5 3-1.9 1,0.6 1-0.5 1,1.4 1-0.6 1,0.6 2-1.2 4-6.6 2-1.1 2,1.9 2,3.7 2,2.4 1,1.1 1,0.3 1-0.6 3,0.9 1-0.6 2,0.9 2-0.8 3,0.5 1-1.3 2,1.3 4-3.2 2-0.8 1,1.1 1-0.3 2,1.2 2-5.3 1-7.6 3-35.3 1-18.2 1-4.3 1,0.3 2,18.3 2,31.2 2,12.6 1-2.2 1-6.9 3-38.7 2-11.9 1,6.4 2,29.6 2,21.5 2,9.3 2,0.6 1-1.7 4-17.3 1-3.4 1-1.1 1,2.4 2,9.9 2,7 1,2.2 1,0.1 1-1.3 2-9.2 3-25.4 4-40.6 1-2.2 1-6.8 1,3.2 2,14.3 3,35.6 2,11.4 1-0.6 1-3.1 2-24 3-71.7 2-30.9 1-6.4 1,15.2 1,4 4,90.7 1,13.7 1,10.6 3,20.4 1,2.7 1,0.5 1-0.8 1-3.2 4-31 1-1.4 1,3.9 3,23.8 1,5 2,5.7 2,0.8 1-0.9 1,0.3 1-1.6 2-5.9 2-9.1 1-2.1 1-0.3 4,16.7 1,0.5 1,2.3 2,0.7 1-0.7 4,0.4 1-0.6 4,1.1 1-1.1 5,0.9 1-1.4 3-0.4 3,1.2 1,0.8 3-0.1 1-1.1 1,0 1-1 1-3.5 1-0.5 5,6.4 1-0.5 1,1 1-1.4 3,1 2-0.7 1,0.8 1-0.5 6-7.7 1,2 4-5.8 1,0.2 1-3.3 1,0.7 4-3.2 3,11.7 3,5.3 1-0.3 1,0.6 1-0.6 1,0.2 3-3.7 2-0.6 1,0.3 3,4.6 1-0.9 1,1.2 1-0.9 1,0.9 3-4.7 3-8.9 2-2.6 1-0.4 4,9 1-0.6 2-5.7 1-2 1-0.8 3,10.9 1-0.5 2-7.9 1-6.3 1-1.5 1,1.1 3,16.7 3,4.2 2-0.4 2,0.7 2-0.5 1,0.9 1-1.2 1,1.1 8-0.9 3,0.8 6-0.7 1,0.9 3-0.6 1,0.6 1-0.5 4,0.5 2-0.6 1,0.4 2-0.5 1,0.3 1-0.2 1,0.6 2-0.6 3,0.5 4-0.6 2,0.4 5-3.1 3,2.1 2,0.2 1,0.7 2-0.5 1-2 1-5.7 1-12.3 4-106.6 1,1.1 1,19.9 3,85.6 1,11.9 1,5.6 1,2.5 2,0.7 1-0.8 5,0.8 3-0.9 1,0.6 2-0.5 1,0.6 2,0 4-0.7 4,0.7 1-0.7 2-0.3 2,0.8 1-0.2 1,0.7 1-1 1,0.6 3-0.9 4,0.4 2-0.9 1,1.2 1,0.1 1-0.6 2-0.2 2,0.2 1,0.6 2-0.9 1,0.9 1-0.4 1-1.6 3,1.7 1-0.7 1,0.5 3-0.6 1,0.2 1-0.8 1,0.9 1-0.7 1,1.2 1-0.5 2,0 1-0.9 2,0.9 1-0.8 1,1 2-0.7 3,0.7 2-0.4 1,0.6 3-1.4 1,1.3 1-0.5 2-0.1 2,0.7 1-0.6 2,0.4 1,0.9 2-0.7 3,0.9 9,1.3 3-0.4 9,0.1 1,0.4 23,0" stroke="#bcbd22"/><path d="M291,569.7l2-4.9 1-0.7 3,5.7 3,1.6 3-0.5 1,0.5 1-0.3 2,0.9 1-1 2,0.8 2-0.6 2,0 1-0.6 1,1.5 1-1.1 1-0.1 2,0.5 1,1 2-0.6 1,0.4 2-0.8 2,0 1,1 1-0.9 2,0.5 2-0.4 2,0.8 2,0.1 2-0.7 1,0.4 1-0.6 1,0.4 1-0.7 1-2.4 2-11.5 1-1.3 2,12.1 1,3.5 1,0.9 6,0 2-6.7 2-44.1 3-186.1 1,2.3 1-59.6 1,34.4 1-49.5 1,8.7 1-18.2 1,15.5 1,31.6 1-1.2 1-21.4 1,48.1 1-13.7 1,7.3 1,38.7 1-4 1-15.9 1,16.1 1,2.4 1,22.2 1,2.6 1,28.8 1-13.9 1,41.2 1-30 1,28.4 1,4.8 1-30.2 2,43.8 1-8.3 1-2.6 1,21.7 2-12.3 1,18.4 1-1.1 1,24.4 2-19.3 1,4.1 1,16.6 1-10.4 1,5 1,1.7 1,0 1,6.8 1-0.2 1-3.6 1,1.9 1-2.8 1,6.5 1-5.7 1,4.2 1-15.2 1-4.3 1,1.2 1-3.6 3,0.7 1,1.4 2-5.7 1,14.9 1-1.8 1,3 2,18.6 1-3.4 1,13.5 1,1.3 2,9.2 1,3.5 1,1.9 1,5.8 1-3.3 1,6 1-3.2 1,3.6 1,0.8 1-1.2 1,0.1 1,2.6 1,0.2 1-0.4 1,3 1-0.1 1-2.9 1,6 1-0.2 1-1.5 4,1.1 2,3.1 1-3.3 1-0.2 1,3.6 1-1 2,3.4 1-2.9 1-0.5 1,2.6 1,0.1 1-0.9 1,1.6 1-0.2 1,1.9 1-1.5 1,2.8 1-3 1,1.1 1,2.7 1-2.2 1,1.2 1-0.7 1,1.4 2-0.7 1,2.4 1-1 1,0.7 2-1.4 1,1.2 1-0.2 1-1.4 1,2.3 1-0.7 1,3 1-1.9 1,0.7 1-0.5 1,0.5 1-0.2 1,0.6 1-0.9 1,2.1 1-3.4 1,2.3 2-1 1,0.8 2-2.6 3-7.8 1-6.7 2-2 1-6.1 3,4.1 2,9.6 4,12 3,0.7 2,2.3 2-1.3 1,0.7 2-1.3 1,1.9 3,0.6 2-1.1 1,0.8 1-0.8 1,0.5 1-1.2 3,1.9 3-0.9 1,0.4 2-1.3 1,2.7 2-1.9 1,0.5 1-1.6 1-0.4 1-2.7 1,0.4 1-1.3 1,1.1 1-0.7 1,0.2 1-1.3 3-9.3 1-1.4 1,0.2 1,1.3 2,8.3 1,3.1 1,1.3 3-3.6 1-4.4 2,1.6 1-0.4 1,3.2 2,3.8 1-0.1 1-3.2 1-9.8 2-29.8 1,1.6 1,7.7 1,17.4 1,10.8 1,4.4 1-0.6 1-8.5 2-27 1-6.7 2,14.5 1,14.3 2,14.2 1,0.8 1-1.3 4-30.5 1,2.2 2,19.4 2,11.4 2,3 1-0.6 1,1.4 2-1.6 1,0.4 2-0.6 1,1.7 3-2.2 1,1.7 1-1 1,0.6 2-5.1 5-29.3 2,12.4 2,17.4 1,3.1 2,1.7 2-0.8 1,0.4 2-1.6 1,0.3 3-2.6 1,2.2 1,0 1,1.3 2,1.1 1-1 1,0.3 1,1.2 4-1.6 2,0.1 1,0.6 1-0.2 1-1.8 1,2.4 1-1.8 1-0.5 1,1.7 1-1.3 1-0.3 2-7.3 3-19 1,2.2 1,0.7 4,20.8 1,2 2,2.1 1-0.1 1-0.9 1,0.4 2-1.9 1,2.5 1-2 1,2.1 1-0.6 3,0.4 2-0.9 1-2.7 1,2 2-2.9 1-0.5 1,0.3 1-0.3 3,1.9 1,3.3 1-2.8 1,1.5 1-0.4 1,0.9 1-0.7 1,0.2 1-1.7 2,2.1 1-0.8 2,0 1,1.1 1-1.4 1,0.4 2-1.1 1,1.8 1-2.3 1,0.1 1-0.5 1,0.4 1,1.3 2-1.4 1,2 1-1 3,1.1 1-1.1 1,1 1-1.6 1,4 1-3.2 1-1 1,0.1 2,1.6 1-1.6 1,1.8 1-0.2 1,0.4 1-1.9 1-0.8 1,1.8 1-1.4 1,1.2 1,0 2-2.4 1,2.4 1,0.2 1-2.7 2,2.5 1,0.3 1-1.4 1,0.4 2-1 1,0.8 1-0.6 2,1.7 1-2.6 1,0.7 1-6.9 2-3.6 2,9.8 1,1.9 1,0.8 1-0.7 1,0.1 3-1.4 3,1 1-0.6 1,2.9 1-3.6 2,1.1 1-1.2 1,1.8 2-1.2 2,1.1 1-2.2 1,3 1-0.7 1,0.2 1-2 1-0.4 2,1.3 1-1.2 1,1.3 1-0.1 1,1.1 1-3.2 1,2.9 2-1.6 3,1.4 1-2.2 1-0.2 1,0.6 1,2.7 2-2.2 2,1.8 2-2.1 2,0.5 2-1.6 2-6.1 2-14.7 1-4 1-0.5 1,5.7 1-1.8 1,5.6 7,16.7 1-0.8 1,0 2,2.5 1-1.4 2,0.5 2-1.3 1,0.9 1-0.8 1,1.8 1-2.4 4-35.7 1,2.9 1,13.2 2,15.5 1,5.2 1-0.5 1,4 1-3.3 1-0.6 1,1.4 4-11.1 1-6.5 1,1 3,13.6 1,1.9 2,1.4 3-6.9 1,0.3 1,2.8 1,1.2 1,0 1,1.2 2-1.1 1,3.6 1-1.4 1-0.1 1-2.5 1,3.1 1,0.8 1-1 1,0.7 2-1.7 1,2.7 2-3.4 1,2.4 1-2.4 1-0.8 1,2.8 2,0.2 1-1.2 1,1.8 1-1.8 2,0.9 1-2 1,1.5 1,0.1 1,1.6 1-1.6 1,0.2 1-0.9 5,0.5 1-2.9 4-18.6 4,19.5 1,2.8 1-2.3 2,2.4 1,0.3 1-0.4 1,1.5 1-1.5 1,0.9 1-1.1 1,0.9 1-1.5 1,0.7 2,0.1 2-1.6 1,1.2 2-0.3 1,2 1-0.7 1,1.1 1-2 1-0.1 3,1.2 1-1.3 1,2.8 1-1.7 1,1.5 1-1.7 1,1 1-1 1,0.4 1-1.9 2-1.2 2-7.7 2-4.9 3,7.7 1,5.2 2,0.1 2,2.3 1-0.6 1,0.4 1-0.4 2,2.5 1-0.3 1,1.3 1-1.5 1-0.4 3,1.1 1-2.5 1,0.1 1-0.9 1,0.5 1-1.5 1,2.8 1-1.5 1,2 1-0.4 2,1.6 1-0.1 1,0.6 1-1.4 1,0.3 1,2.4 3-3.6 1,2.6 1-2.3 1,1 2,0.1 2-7.1 3-20.7 1-3.3 1,1.8 1-0.2 2,17.9 3,11.1 2,1.8 1-2 1,0.3 1,1.6 3-5.4 2-15.7 1-12.7 2-7.2 1,1.2 4,29.7 2,6.4 3,3.2 1-0.8 1,0.4 1-0.4 1,2 1-1.2 1-0.2 4-0.1 1,0.4 1-0.3 1-1.1 2,1.1 2-0.5 2-1.2 1,0.8 2,0.5 2-0.5 1,1.5 1,0.3 1-2.1 1,1 1-2.2 3,0.2 2,2.1 3-0.3 1-2.2 2-8.6 1-1.1 2,5 1,4.7 1,0.8 1-2.2 1-0.6 1-1.9 3,3.9 2-2.9 3-9.9 1,0.8 1-3.7 1-0.4 2,7.3 1,2 1,5.3 2,2.3 1,2.5 1-1.1 2,1.3 3-2.7 1,1.4 2-5.7 1-5 4-32.9 1-2.5 1-0.2 4,36.8 1,4 1,1.4 1-0.1 1-1.5 2-8.5 1-1.8 1,2.1 1,6 2,6.6 2,0.4 1-1.2 1-2.5 1-0.3 4,5 2-3.3 4-13.2 1,0.3 1-2.2 4,14.2 2,3.3 1,0.2 1-0.6 1,0.5 1-0.8 1,0.3 1,1.7 1-2 1,2.9 1-3.4 1,1.5 1,0.1 1-1.2 1,0.1 2-2.7 2-11.5 1-1.5 2,7 1,6.9 1,1.9 2,0.5 1-1.4 1,0.9 1-2.4 2-12.2 1-9.7 2-31.3 2-21.7 2,17.1 4,48.9 1,2.7 1-1.1 1-7.4 3-49.2 2-22.2 1,3.1 4,60.7 2,15.7 2,5.6 2-0.9 1-4.2 1-2.6 2-3 1-3.4 2,6.7 3,6.4 1,0 1,2 2-6.5 2-16 2-29.5 4-79 1-12.7 2-4.5 5,94.1 1,15.8 2,19.1 1,0.3 1-2.2 1-4.4 2-21.6 4-56.8 1,1.9 1-2.6 6,80 1,8.5 1,7.5 2,6 3,3 1-0.5 2-3.2 1-4.4 1-0.7 1,0.1 2,2.1 1,4.1 2,0.4 1,3.1 1-0.9 1,1.9 1-3.5 1,1.9 1-0.7 1,0.9 2-1.5 1,1.1 1-2.4 1,3 2-2.4 1,0 1,1.3 2-0.7 2,2.9 2-3.2 1,1.5 1-0.3 1,0.5 1-1.4 3-0.4 1,1.2 2-1.4 1,2.2 2-1.4 1,0.9 1-1.9 1,2.2 2-2 2,0.5 1,1.3 1,0.2 2-0.2 1-1.4 1,2.5 1-2.9 1,0.8 3-1.6 1,1.3 2-1.6 1,3.6 1-2.3 3,1.7 2-1.4 1,1.5 1-1.5 1,1.1 1-3.1 3,0.4 3-5.4 2-6.5 1-6.4 3-6.2 1-5.2 4,9.3 3,14.7 1,1.9 1-1.1 1,5.9 1,0.8 3-8.1 3,6.2 2,1.7 2-2.1 1-2.2 1-0.1 1-1.9 1,2.8 1-0.5 1,2.9 1,1.2 2-0.9 2-10.6 2-6.2 1-5.9 1-1.4 1-4.5 1,2.2 1,5.5 2,6 1,0.7 1-1 1-3.7 1,2.6 1-1.4 3,17.2 1,0.2 1-3.2 1-1.4 1-5.2 1,0.2 1,4.6 1,1.3 2,5.9 1,0.6 3-0.3 1,2.1 1-1.7 2,0.7 2-0.1 1-1.7 1,1.2 2,0.5 1,1.2 1-2.2 2,0.4 1,2.3 2-3.9 1,1.7 1,0.1 1-1.2 2,0.7 1,2.3 1,0.8 1-0.5 1-2.1 1,0.6 1-0.9 1,0.7 1-1.5 1,0 1,2.7 1-2.3 1,0.1 1,1.7 1-0.8 3-0.1 1-1.5 1,3.1 2-1.7 1,0.9 1-2.2 1,0.4 1,2.1 2-1.8 1,0.1 1,1.8 1-0.7 1-3.9 1,1.1 2-6.1 1,0.6 1-3.3 5,10.2 2,1.9 1-0.4 1-3.1 1,1.9 2-6.1 1-5.9 1-12.6 2-13.3 1,1.4 1,4.7 2,19.7 2,11.8 2,1.9 1-0.8 2,0.9 1-0.7 1,0.9 2-0.5 1,1.4 1,0.1 1-3.6 1,3.9 1-1.3 1,0.3 1-0.2 1-1.4 1,1.6 1,0.5 1-2.4 1,1.2 1-0.8 2,1.7 1-2.3 1,1.2 1,0.1 1,1.1 1-1.3 2,0.1 1,0.9 1,0 1-1.2 1-0.5 1-1.7 1,0.4 2-1 1-2.3 1,2.1 1-3.3 1,2.3 1-1.2 1-2.6 1,1.3 1-1.7 1,0.4 1-2.4 1,0.2 1,1.1 1-1.3 1,0.2 1-1.1 2,0.3 1-1.3 1-2.5 3,1.8 1-1.1 2,1.1 2,0.4 1-2.1 1-0.2 1,0.4 1-1.4 1-0.4 1,1 1-1.8 2-1 3,1.4 1-0.5 1,1.7 1,0.2 1-2.1 1,1.7 2,1.3 2-2.1 1,1.6 1-0.1 4,2.4 2-3 2,4 2,0.6 1,2.1 1-1.2 1,3.3 1-0.4 1,2.6 1,0.6 2,2.9 1,0.1 4,5.1 3,2.5 2,0.3 3-0.5 3,0.7 1-0.4 5,0.3 9-0.4 2,0.7 1-0.4 9,0.2" stroke="#17becf"/><path d="M291,571.5l2-9.9 1-2.7 1,0.9 1,5.9 2,6.8 2,1.3 2-0.5 2,0.5 8-0.3 2,0.6 4-0.6 3,0.5 1-0.5 7,0.6 1-0.9 1,0.7 11,0.1 1-0.7 1-3.2 3-30.7 1-1.3 2,25.9 1,7.1 1,2.6 1,0.6 3,0 1-0.7 1-3.4 1-9.8 1-21.7 4-274.4 1,17.5 1-41 1,12.5 1-9 1-0.1 1-21.9 1,21.3 1-0.6 1,10.9 1,31.8 1-7.7 1,28.1 1,4.5 1,14.5 1,40.8 1-2.9 1-6.2 1,33.7 1-20.1 1,13.4 1,5.2 1,11.8 1,6.3 1-1.4 1,26.6 1-3 1,12.2 1,2.7 1,6 1,15.7 1-12.9 1,8.2 1,1.2 1,16.2 1-13.4 1,17.6 1,9.1 1-5.3 1,6.9 1,1.4 3,8.5 1-3.2 1,5.2 1,2 1-1.9 1,6.7 1,1 2-9 2-4.5 1,2.2 1-10.3 1,1.9 1-5.2 1,3.9 1-7.3 1,2.2 1-4.4 1,7.8 1-4.8 1,3.3 1,1.3 1,6.1 1,0.1 1,15.2 1-3 2,16.8 1-1.8 1,8.8 2,10.6 1-3 1,7.2 1,2 1,1.1 1-0.6 2,1.2 1,3.2 2,0.2 1,2.1 3,1.2 1-1.9 1,3.2 1-1.7 1,0.4 1,2.3 1,0.4 2-0.9 1,1.1 1-0.4 2,1 1-0.5 1,2.3 2-2.6 1,2.7 2-0.6 1-1 1,1 1,2.5 1-1.4 1,0.9 2,0.3 1-1.4 1,1.4 1,0.2 1-0.8 1,1.4 1,0.5 3-0.7 1,0.9 2-0.3 1,0.4 1,1 1-1.2 1,0.6 1-1.1 1,2.5 2-1.1 2,0 1,0.5 1-0.4 2,1.1 2-0.9 1,0.2 1,0.8 1-0.8 3-3.7 1-4.8 1-2.1 7-41.1 1,4.5 1-0.3 6,39.3 1,3.6 4,6 1-0.3 3,1 2-0.4 1,0.9 2,0.3 2-0.6 1,0.4 1-0.9 2,0.8 1-0.4 2,1.1 1-1.9 1,0.6 2-2.7 4-16.2 1-1.9 1,0.6 2,6.6 1,5.3 2,3.7 1-2 1-5.3 4-49.8 1-4.6 1,4.6 2,28.3 2,19.3 1,5.8 2,6.2 1,0.6 1,2.2 2,0.6 1-0.3 1,0.5 2-0.9 2-0.2 1-3.8 1-8.9 3-40.2 1-0.9 3,42 1,2.1 1-5.9 1-11.3 2-11.6 2,23.2 1,7.9 1,3.3 1-2.2 1-14 4-170.3 1,0.2 3,144.9 1,28.9 1,12.4 1,4.5 1,0.7 1-0.6 2,1.3 1-1.5 1,1.1 1-0.9 2,1 1-0.6 1,0.8 1-0.9 3,0.7 1-0.1 2-1.2 1,0.3 3-1.2 2,1.9 3,0.6 1-0.6 2,0.2 1-0.5 2,0.3 4-8.2 1,0.9 3,5.6 1,0.4 1,1.6 1-0.8 1,0.9 1-0.1 1-1 1,1 3-1.1 1,1.4 1-0.6 1,0.4 1-0.5 1,0.2 1-1 1,0.3 2-1.4 2,0 3-5.6 2-2.3 4,9.2 1-0.8 1,2 1-0.9 3,0.6 3-0.6 1,0.6 1-0.3 1,0.8 1-1.3 1,0.6 1-1 1,0.8 1-0.2 2-1.6 1-2.9 3-16 2,5.9 3,12.8 3,2.4 1-0.1 2-1.6 3-4.1 1-0.7 1,0.7 1,2.8 1-0.2 2,2 2,0 1,1.2 1-1.6 1,1.9 1-1.2 1,0.6 2-1 2,1.2 3-1.4 2-2.2 2,0 4,3.2 1-0.9 3,1.1 1-0.9 2,0.8 2-1.5 1,0.8 1-0.9 1-2.5 2-1.8 1,0.4 1,1.6 1,0.3 1,1.7 1-0.1 1,1.5 1-0.7 2,0.9 2-0.6 1,1.5 1-1.1 2,0.8 1-1.7 1,1.3 1-0.9 3,0.6 1,1.6 1-3.2 2,2.3 1-0.1 1-1.5 2,1.1 1-1.3 2,1 2-0.7 2-2 1,0.9 1-0.1 2,1.9 2-0.3 1,0.5 1-0.7 1,0.2 1-0.6 1,0 1,0.6 2-0.4 1,0.6 1-0.2 1,2.2 1-2 1-0.3 1,1.1 1-1.6 2,1.1 1-1 1-0.1 1,1.5 1-1 3,0.1 2,1.6 1-1.8 5-1 2-8.6 3-47 1-9.4 1-3.9 2,21.8 2,32.3 1,7.3 2,7.4 1-1.2 4-10.2 1,1.7 1-0.2 1,3.9 2,3.1 1,2.7 2,0.9 1,1 4-1.3 1-2 2-0.5 1,1.6 1-0.7 1,2.2 1-0.6 1,0.8 1-1.5 1,0.6 1-0.9 1-2.1 1,0.7 1-1.4 1,0.2 1,1.1 1,1.9 1-0.3 1,1.8 2-0.4 1,0.6 1-0.5 1,0.6 1-0.6 1,0.4 1-0.5 1,0.5 1,1.5 1-1.5 1,0.4 1-1.5 1,1.4 1-1 2,0.8 3-1 1,1.5 2-1.4 2,0.7 3-0.7 1,1 1-0.5 1,0.2 1,1.1 1-0.6 4-0.6 1,1.2 1-0.7 1,1.1 2-1.7 1,0.3 1-1 3,1 1-0.6 1,1.8 1-1.6 1-0.5 1,0.1 1-1.7 1-4.4 2-2.5 1,1.3 1,2.9 1,0.4 1-0.5 3-7.1 1-0.1 1,0.9 2,5.1 2,4.1 1,0.4 1,2.6 2-3.3 4-26.1 1,0.2 1,2.2 3,20.9 1,3 2,3.3 2-0.6 1,0.7 2-1.9 1,1.7 3,0.1 1-1.1 1,0.7 1-1.1 1,0.2 5-12.5 1,1.1 3,5.6 1-4.2 2-17.1 1-0.5 2,19.4 1,5.9 2,3.7 2-1.2 1,0.1 1-1.2 1-0.2 2-3.7 1-4.1 2-2.7 1,0.6 3,8.3 2,3 4,1.4 1-0.3 1,0.7 1-0.8 2-0.6 1,0.7 3-1.5 1-2.8 1-4.4 1-12.7 4-114.6 1-16.2 1,7.9 3,60.5 4,49.9 1,4.6 2,4.2 4,19.4 2,4.4 3-1.2 2,0.2 2,1 1-0.6 1,0.7 1-1.7 1,0.3 1-1.4 1,0.7 1-1.3 1,1.7 2,1.3 2,2.6 2-1 1,0.5 2-0.4 1,0.5 1-0.8 2,0.9 2-7.5 3-30.2 1-3.1 1,6 3,29.4 1,3.3 1,1.4 1,0.8 3-1.1 1,1.1 1-0.1 1-0.9 3-0.5 1-0.9 1,1.2 1,0.2 2-1.5 1-1.6 2,3.4 1-0.4 1,0.9 1-0.9 1,0.1 2-3.1 2-8.7 2-16.1 3-14.6 1,1.4 1,3.3 3,24.9 2,9.1 2,3.8 3,0.9 1-0.8 1,0.8 1,0 2-1 2-4.1 2-13.3 3-28.1 1-3.4 1,3.7 4,35.5 2,8.7 1,0.8 1,0.8 1-0.9 3-0.6 2,2 5-0.3 2-3 1-2.7 1-5.6 4-30.8 1-3.2 1,4.8 1-0.6 3,26 3,13.1 2,2.3 1-0.2 2,0.9 1-1.1 2,0.7 1-0.4 2,0.5 5-2.7 1,1 1-0.2 1,0.9 3,0.5 2-1.2 2-3.6 2-9.2 5-62.7 1-0.5 1-6 4,57.2 3,22 1,0.8 1-0.2 1-1.3 3-7.3 1,1.3 1-1 4,8.9 2,2.2 2-0.4 2-6.2 2-10.5 2-5.9 2,5.7 2,10.9 2,3.6 1-0.9 2-5.4 2-11.2 3-41.8 3-59.5 1-4.5 1-14.7 1,10.7 1-0.6 1,14.1 1,30.8 2,37.1 2,26.1 2,12.7 1,2.4 2-2.6 3-12.2 1-6.5 2-4 1-0.4 2,5.2 4,18.8 2,5.9 2,3.3 1-0.9 1,0.1 1-2.1 1-4.9 1-6.5 3-31.8 1-4.5 1,2.4 4,39.3 2,7.6 2,1.7 7,0.6 1-0.7 2,0.6 1-0.7 1,0.3 1-0.7 2,1.4 2-1.4 1,1.4 2-1 1,0.5 1-0.7 1,0.9 2-0.6 1,0.6 1-0.9 3-0.1 1,0.5 1-0.4 2,0.6 2-1 2,1 3-1.1 3,0.9 1-1 2,0.7 1-0.4 2,0.5 4-2.8 1,0.3 1-0.7 2,0.9 1,2.3 2-0.7 2,0.7 2-1 2,0.5 3-6.1 2-7.9 4-31 3,5.4 2,15.7 2,10.5 2,7.4 3,4.3 1,0.9 1-0.1 1,1 1-0.1 1-0.9 1,0.8 2-1.2 1,0.6 1-0.7 1,0.6 1-0.4 2,0.9 1-1.1 1,0.6 1-0.1 1-1 2-5.5 4-16.8 1-2.2 1,1.1 1-1.1 1,6.9 2,5.4 1,0.6 1-3.5 2-13.8 1-1.1 1,3.8 2,16.1 1,1.9 1-0.9 2-9.5 2-1.9 3,16.2 1,3.3 3,2.5 2-0.2 2,0.5 1-0.6 2,0.4 2-2 1-3.9 2-14.8 1-2.3 1,1.4 3,20.3 2,1 1-0.2 2,0.9 1-1.3 2,1.5 1-1.9 2,1.4 2,0 3-1.5 1,1 2-0.2 1,0.7 1-0.7 2,0.4 1-1.2 1,1.1 1,0.2 1-0.8 1-0.1 1,1.2 1-1.8 2,0.8 2-0.5 1,1 3-4.8 1-2.2 1-4.9 1-0.8 1-2.7 1,1.2 3,10.9 3,3.9 1-0.7 2-3.7 1-6.5 1-13.9 2-51.8 1-16.5 1-4.9 3,72.9 1,12.5 1,7.4 1,3 2,1.9 1-1.1 5-0.1 1-1.2 3,1.8 1-1.3 1,1.6 2-2.1 1-0.2 1,1.5 1-0.3 3,0.6 1-2 1,1.2 2-0.1 3,1 2-1 1,1 1-1.1 1,0.6 1,1.3 1-0.9 1,0.3 1-1.5 1,1.8 1-2 1,1.3 1-0.9 2,1.4 1-1.9 3,1.4 1-1.1 1-0.1 2,1.8 1-1.8 1-0.6 1,1.6 1-1.4 1-0.3 1,0.8 2-1 4,1.8 1-0.6 1,0.8 1-0.5 4,0.7 1-1.2 1,1.4 1-0.6 2,0.5 1-1.7 1,1.2 1-0.1 1,1.4 1-2.5 1,1 1-0.4 1,1.2 1-0.8 2,0.5 1-1 1,0 1,1.2 1,0.2 2-0.9 2,0.7 1-1.1 2,2.4 3,0.4 1,1.1 2-1.4 4,2.2 5,0.7 1-0.4 1,0.5 4,0 3-0.6 2,0.5 10-0.3 5,0.6 2-0.4 8,0.4" stroke="#1f77b4"/></g><path d="M290.5,203V594.5" stroke="#444" stroke-width="1" shape-rendering="crispEdges"/><text x="287.40000000000003" y="580.5" text-anchor="end" font-size="15.5" fill="#444" letter-spacing="1.1">0</text><text x="287.40000000000003" y="511.70000000000005" text-anchor="end" font-size="15.5" fill="#444" letter-spacing="1.1">1E+9</text><text x="287.40000000000003" y="443.1" text-anchor="end" font-size="15.5" fill="#444" letter-spacing="1.1">2E+9</text><text x="287.40000000000003" y="374.5" text-anchor="end" font-size="15.5" fill="#444" letter-spacing="1.1">3E+9</text><text x="287.40000000000003" y="305.90000000000003" text-anchor="end" font-size="15.5" fill="#444" letter-spacing="1.1">4E+9</text><text x="287.40000000000003" y="237.29999999999998" text-anchor="end" font-size="15.5" fill="#444" letter-spacing="1.1">5E+9</text><text x="500.05" y="610.7" text-anchor="middle" font-size="15.5" fill="#444" letter-spacing="1.1">2</text><text x="709.05" y="610.7" text-anchor="middle" font-size="15.5" fill="#444" letter-spacing="1.1">4</text><text x="918.05" y="610.7" text-anchor="middle" font-size="15.5" fill="#444" letter-spacing="1.1">6</text><text x="1127.05" y="610.7" text-anchor="middle" font-size="15.5" fill="#444" letter-spacing="1.1">8</text><text x="1336.05" y="610.7" text-anchor="middle" font-size="15.5" fill="#444" letter-spacing="1.1">10</text><text x="1545.05" y="610.7" text-anchor="middle" font-size="15.5" fill="#444" letter-spacing="1.1">12</text><text x="996.5" y="627.3" text-anchor="middle" font-size="17.6" fill="#444" letter-spacing="1.25">RT(min)</text><text transform="translate(231.3,399.5) rotate(-90)" text-anchor="middle" font-size="17.6" fill="#444" letter-spacing="1.65">Intensity</text></svg>
<svg class="abs" style="left:1774px;top:150px;z-index:2" width="771" height="520" viewBox="1774 150 771 520" fill="none" stroke-linejoin="round" stroke-linecap="butt"><path d="M1860,508.5H2479" stroke="#eee" stroke-width="1" shape-rendering="crispEdges"/><path d="M1860,446.5H2479" stroke="#eee" stroke-width="1" shape-rendering="crispEdges"/><path d="M1860,383.5H2479" stroke="#eee" stroke-width="1" shape-rendering="crispEdges"/><path d="M1860,321.5H2479" stroke="#eee" stroke-width="1" shape-rendering="crispEdges"/><path d="M1860,258.5H2479" stroke="#eee" stroke-width="1" shape-rendering="crispEdges"/><path d="M2007.5,203V594.5" stroke="#eee" stroke-width="1" shape-rendering="crispEdges"/><path d="M2119.5,203V594.5" stroke="#eee" stroke-width="1" shape-rendering="crispEdges"/><path d="M2231.5,203V594.5" stroke="#eee" stroke-width="1" shape-rendering="crispEdges"/><path d="M2343.5,203V594.5" stroke="#eee" stroke-width="1" shape-rendering="crispEdges"/><path d="M2455.5,203V594.5" stroke="#eee" stroke-width="1" shape-rendering="crispEdges"/><path d="M1860,571.5H2479" stroke="#444" stroke-width="1" shape-rendering="crispEdges"/><path d="M1895.5,203V594.5" stroke="#444" stroke-width="1" shape-rendering="crispEdges"/><path d="M1895.5,426.9l0.6-0.5 0.5,0 0.6,0.7 2.8-0.5 0.5,1 0.6-1.3 0.6,0.6 0.5-0.3 1.1,0.4 1.2-0.4 1.1,0.4 0.5-0.4 1.2,0.9 0.5-0.8 1.1,0.9 1.2-0.5 1.1,0.4 1.1-0.9 1.1,0.6 0.6-0.5 0.5-0.1 0.6,0.4 1.1-0.5 1.1,0.7 1.7-0.7 0.6,0.9 0.5-0.3 1.2,0.4 1.1-0.8 0.5,0.5 0.6-0.8 1.7,0.3 0.5-0.2 0.6,0.9 0.6-0.7 0.5,0 0.6,0.9 0.5-0.8 0.6,0.2 0.6-0.4 0.5,0.5 1.1-0.3 0.6,0.4 0.6-0.5 0.5,0.2 0.6-0.2 0.5,0.4 0.6-0.6 1.1,0.5 1.7-0.8 0.6,1.3 0.5-0.9 1.7,0.7 0.6-0.9 0.5,1 1.1-1 0.6,1.1 0.6-0.5 0.5,0.4 1.7-1.3 0.6,1.5 1.6-1.3 1.2,0.9 0.5-0.4 1.7,0.4 0.6-0.5 1.6,0.3 0.6,0.4 1.1-1 1.1,1 0.6-1 0.6,0.3 0.5-0.6 0.6,0.8 1.1,0.5 1.1-1.5 0.6,1.3 1.1-0.5 0.6,0.5 2.2-0.7 0.6,0.4 0.5-0.4 0.6,0.6 0.5-0.3 0.6,0.9 1.1-1.1 0.6,0.5 1.7-0.7 1.1,0.1 1.1,0.7 1.7,0.1 1.7-0.5 1.1,0.8 0.5-0.7 1.2-0.4 1.6,0.7 0.6-1.1 0.6,0.5 1.1-0.5 0.5,1.1 0.6-0.5 1.7,0 1.1,0.1 0.6,0.7 0.5-0.5 1.7,0.1 1.1-0.5 2.3,0.5 2.8-0.4 0.5,0.7 0.6-0.8 0.5,0.6 2.3-0.4 1.1,0.5 0.6-0.1 0.5-0.8 1.1,0.9 0.6-0.4 0.6,0.6 0.5-1.3 0.6,1.3 0.5-0.8 0.6,0 0.6,0.7 1.1-0.9 3.3,0.4 0.6-0.2 0.6,0.5 0.5-0.6 1.1,0.7 1.2-1 1.1,0.8 0.5-0.5 0.6,0.5 1.1-0.2 0.6,0.9 0.5-1 0.6,0.5 1.7,0.2 1.7-1.2 0.5,0.6 0.6-0.4 1.1,1.1 0.6-0.8 1.1,0.3 1.1-0.4 1.1,0.7 0.6-0.4 1.1,0 1.1-0.8 0.6,0.9 0.5-0.5 1.7-0.1 0.6,0.5 1.1-0.9 1.1,1 1.1-0.7 1.2,0.7 0.5-0.8 0.6,1.1 0.5-0.7 1.2,0.6 0.5-0.9 1.1,0.9 0.6-0.6 1.1,0.9 1.1-0.8 2.8,0.2 0.6-0.5 0.6,0.3 1.1-0.1 0.5,0.6 0.6-0.1 0.6-0.9 1.1,0.7 1.7-0.2 0.5,0.3 0.6-0.3 0.5,0.7 0.6-1.1 1.1,1.1 0.6-0.5 1.1-0.2 0.6,0.5 1.1-1.8 0.5,1.9 0.6-0.6 1.1,0 0.6,0.8 1.1-0.9 0.6,0.2 0.5-0.6 0.6,0.9 0.5-0.4 0.6-1 0.6,1.4 2.2-0.6 1.1,0.6 1.1-1.3 0.6,0.5 0.6,1.5 0.5-1 0.6,0.3 0.5-0.5 0.6,0.3 0.6-0.8 2.2,0.7 1.1-0.5 1.1,0.6 0.6-0.6 1.7,0.8 1.1-0.1 0.6,0.8 0.5-1.4 1.1,0.5 0.6-0.5 1.1,0.3 0.6,1 0.5-0.8 1.7-0.8 0.6,0.2 1.1,1.3 0.6-1 2.2,0.1 0.6,0.7 0.5-0.8 0.6,0.4 0.5-0.3 2.3,0.1 0.5-0.3 1.7,0.5 0.6-0.9 0.5,0.7 0.6-0.4 1.7,0.7 1.7-0.5 0.5,0.7 1.1-0.5 0.6-0.6 0.6,1.5 0.5-1.1 0.6,0.4 0.5-0.4 0.6,0.4 1.1-0.8 0.6,0.5 1.1,0 0.6,0.4 0.5-0.5 1.1,0.5 1.7-0.6 1.1,0.5 0.6-0.8 2.8,0.8 1.1-0.6 1.1,1 0.6-0.6 0.6,0.5 0.5-0.6 0.6,0.5 0.5,0.1 0.6-0.6 0.6,0.1 0.5,0.6 1.1-1.4 0.6,1.4 0.6-1.3 0.5,1 1.1-0.2 0.6,0.4 0.6-1 2.2,1.1 1.1-1 0.6,1 1.7-1 0.5-0.1 0.6,0.7 0.5,0.1 0.6-0.5 1.1,0.3 1.1-0.7 1.2,0.7 0.5-0.3 0.6,0.9 0.5-0.7 0.6,0.4 0.6-1.3 0.5,0.6 1.1,0.4 0.6,0.8 0.6-1.2 0.5-0.3 0.6,0.9 0.5-0.6 0.6,0 0.6,0.9 0.5-1 0.6-0.1 1.1,0.5 0.6-0.3 0.5,0.9 1.1-1 0.6,0.9 0.6-0.9 1.1,1.2 0.5-0.8 0.6,0.4 0.6-0.5 0.5,0.5 0.6-0.8 0.5,0.7 0.6-0.4 0.6,0.3 0.5-0.1 0.6-0.6 1.7,1 0.5-0.9 1.1,0.5 0.6-0.2 0.6,0.5 1.1-0.1 0.5-0.4 1.2,0.4 0.5-0.6 1.1,0.2 0.6-0.3 0.6,0.5 2.2-0.4 0.6,0.8 0.5-1 0.6,0.8 0.5-0.2 0.6,0.4 1.1-1 1.1,0.2 0.6,0.9 1.1-0.4 0.6,0.1 0.5-0.7 0.6,0.3 1.1-0.1 0.6,0.6 1.1-0.1 0.6-0.5 1.6-0.2 0.6,0.9 1.1-0.6 0.6,0.6 1.1-0.9 1.1,0 1.1,0.5 0.6-0.5 0.6,0.5 1.1-0.6 0.5,0.6 0.6,0.1 1.1-0.4 1.7,0 0.6,0.8 1.1-0.7 1.1,0.6 1.7-0.4 0.5,0.3 1.2-1 0.5,0.6 0.6-0.5 1.1,0.9 0.6-0.3 0.5,0.3 0.6-0.7 0.5,0.7 0.6-0.9 0.6,0.3 0.5,1 0.6-1.1 0.5-0.3 0.6,0.9 0.6-0.7 0.5,1.1 0.6-0.8 0.5,0.7 0.6-0.8 1.1,1.2 1.1-1.9 0.6,1.1 0.6-0.5 1.1,0.4 1.1-0.7 0.6,1.1 0.5-0.7 0.6,0.1 0.5,0.6 0.6-1.1 0.6-0.1 0.5,1.1 0.6-1.1 0.5,0.7 0.6,0.1 0.6-0.7 0.5,0.5 1.1-0.5 1.2,0.3 0.5,0.8 0.6,0.1 0.5-1 0.6,0.7 0.6-0.4 0.5,0.5 0.6-0.3 0.5,0.4 0.6-1.1 0.6,1 1.6-0.9 0.6,1 0.6-0.5 1.1-0.2 1.1,0.4 1.7-0.4 1.1,0.4 1.1-0.3 0.6-0.8 0.5,1.1 1.2-0.8 0.5,1.4 1.7-0.8 0.6-0.9 0.5,0.7 0.6-0.3 1.1,1.4 0.6,0 0.5-1.3 1.1,0.9 0.6-0.9 0.6,1 0.5-1 0.6-0.2 0.5,0.9 0.6,0.1 0.6-0.7 0.5,0.7 0.6-0.7 0.5,0.7 0.6-0.7 1.7,0.6 0.5-0.4 0.6,0.8 0.6-0.6 1.1-0.4 0.5,0.8 0.6-1.1 1.1,1 0.6-0.9 0.5-0.1 1.2,0.9 0.5-0.3 1.1,0.1 0.6-0.7 1.1,0.5 2.3-0.2 0.5,0.4 0.6-0.1 0.5-0.9 1.2,1 0.5-0.9 1.1,1.2 0.6-0.7 0.6,0.6 1.1-0.4 1.1,0.4 1.1-0.1 0.6-0.6 0.5,0.7 0.6-0.1 0.6-1 0.5,1 0.6,11.4 0.5-12.1 1.2,1 0.5-0.7 1.1-0.2 0.6,0.4 1.1-0.5 0.6,0.9 0.5-0.9 1.2,0.7 0.5-0.1 0.6-0.8 0.5,0.3 0.6,1.1 0.6-0.7 2.2,0.5 0.6-0.8 0.5,0.6 1.7,0 0.6-0.6 1.6,0.6 1.2-0.7 1.6,0.5 1.2-0.2 0.5,0.8 0.6-1.3 0.5,0.9 0.6-0.1 0.6-0.7 2.2,1.1 1.1-1.1 0.6,0.8 0.5-0.8 0.6,0.9 1.1-0.6 0.6,0.2 0.5-0.3 1.7,1 1.7-0.2 0.6-0.6 1.1,0.8 0.5-1.6 0.6,1.2 0.6,0.2 0.5-1 0.6,0.1 0.5,0.8 0.6,0.1 0.6-0.1 0.5-0.8 1.1,0.7 1.2-0.8 0.5,1 0.6-0.4 0.5,0.4 0.6-1.3 1.7,0.8 0.5-0.3 0.6,1.1 0.6-0.9 0.5,0.6 2.8-0.8 1.1,0.6 0.6-0.6 0.6,0.3 0.5-0.4 1.1,1.4 1.2-1.8 1.1,0.9 0.5-0.4 1.7,0.5 1.1-0.3 1.2,0.5 1.1-0.8 1.7,0.2 0.5-0.8 0.6,0.9 1.1-0.6 0.6,0.7 1.6-0.6 0.6,0.5 1.1,0.1 0.6,0.4 0.5-0.8 1.2,1 0.5-0.6 0.6,0.6 1.1-0.6 0.6,0.3 0.5-0.7 0.6,0.9 0.5-0.6 1.2-0.5 2.2,0.6 0.6-0.4 0.5,0.6 0.6-0.4 1.7,0.3 0.5-0.9 0.6,1 0.5-0.3 2.8-0.3 0.6,1 0.6-0.6 0.5,0.5 0.6-0.6 0.5,0.5 1.7-0.9 1.1,0.4 0.6-0.4 1.1,1.3 2.3-1.6 0.5,1.3 0.6-1.4 1.7,0.8 0.5-0.8 0.6,0.9 1.1-0.1 0.6,0.6 0.5-0.7 1.7,0.1 0.6,0.5 0.5-0.9 0.6,0.9 0.5-0.7 0.6,0.9 0.6-0.8 0.5,0.5 0.6-0.3 1.1,0.8 1.7-1 1.1,1 1.1-0.7 1.1,0.2 0.6-0.6 0.6-0.1 0.5,0.1 0.6,0.6 0.5-0.3 1.2,0.5 0.5-0.8 1.1,0.5 0.6-0.7 2.2,0.2 0.6,0.8 1.1-0.9 0.6,0.7 1.7-0.9 1.6,0.7 0.6-0.5 1.1,0.4 0.6-0.5 1.1,0.8 0.6-0.8 0.5,0.6 0.6-0.3 0.5,0.8 0.6-0.6 1.7,0.7 0.5-1.5 0.6,0.8 1.1-0.4 0.6,0.4 0.5-0.2 0.6,0.7 0.6-0.6 0.5,0.2 0.6-0.3 1.1,0.7" stroke="#1f77b4" stroke-width="1.7"/><path d="M1895.5,320.1l1.1-0.8 1.1,0.1 1.2,0.9 0.5-0.6 1.7-0.3 1.1,0.5 2.3-0.4 0.5-0.6 0.6,0.7 1.1,0.2 1.1-0.4 2.3,0.1 1.1,0.9 0.5-1.5 1.7,1.1 0.6-0.1 0.5-0.8 0.6,1.2 1.1-1 1.7,0.2 0.6-0.7 0.5,1 0.6,0.1 1.1-0.8 0.6,0.4 0.5-0.3 1.1,0.6 0.6-0.7 0.6-0.1 0.5,0.1 1.1,0.7 1.7-0.5 0.6,0 0.5,0.6 0.6-0.5 2.8-0.1 1.7,0.4 0.5-0.3 1.2,0.7 0.5-0.8 0.6,0.2 0.5-0.3 0.6,0.3 2.2,0.1 0.6,0.4 0.6-1.1 0.5,1 1.1-0.6 2.3-0.2 0.5,0.3 0.6-0.8 0.6,1.1 0.5-0.3 1.1,0.2 1.2-0.6 0.5,0.6 0.6,0 1.7-0.7 3.3,0.9 0.6-0.4 1.7,0.1 0.5-0.5 2.3,0.7 2.8-0.6 1.1,0.6 1.7-0.3 0.5,0.3 1.1-0.5 1.2,0.5 2.2-0.5 1.1,0.6 0.6-0.8 2.2,0.7 1.7-0.6 1.1,1.2 0.6-0.8 1.1-0.5 0.6,0.2 0.5-0.5 1.7,0.4 0.6,0.7 0.5-0.7 1.1,0.4 0.6-0.3 1.1,0.3 2.8-0.3 0.6,0.7 0.5-0.4 0.6,0.3 1.1-0.6 1.7,0.1 0.6-0.4 0.5,0.8 0.6-0.6 0.5,0.7 2.8-0.6 0.6,0.5 0.6-0.3 1.1,0.5 0.5-0.5 0.6,0.2 0.6-0.6 0.5,0.6 0.6-0.7 0.5,0.6 0.6-0.7 1.1,0.4 2.3-0.3 1.6,1.2 1.2-1 2.2,0.4 1.1-0.3 0.6,0.6 0.5-0.7 0.6,0.6 0.6-0.3 3.3,0.2 0.6-1 0.5,0.8 1.2,0.1 1.1,0.5 1.1-0.8 0.6,0.5 0.5-0.4 0.6,0.4 1.7-0.5 1.1,0.3 0.5-0.4 0.6,0.3 1.1-0.3 1.1,0.6 0.6-0.6 0.6,0.5 1.1,0 0.5-0.5 1.2,0.8 1.1-1.2 0.5,0.1 0.6,0.7 1.7-0.5 1.1,0.6 0.6-0.5 0.5,0 0.6,0.6 2.8-0.6 1.7,0.6 1.6-1 0.6,0.6 1.7-0.4 1.7,0.6 0.5-0.4 0.6,0.4 1.7-0.1 0.5,0.5 1.1-0.7 1.2,0.2 1.6-0.4 0.6,0.5 0.6-0.3 1.6,0.5 0.6-0.4 0.6,0.2 0.5-0.9 0.6,0.7 1.1,0.1 0.6-0.7 0.5,0.8 2.8-0.6 0.6,0.7 1.1-0.8 0.6,0.6 0.5-0.1 1.1,0.7 1.2-1.1 1.1,0.9 0.5-0.6 1.2-0.3 1.1,0.4 0.5-0.2 0.6,0.6 0.6-0.8 0.5,0.3 0.6-0.3 2.8,0.9 0.5-0.5 1.2,0.2 0.5-0.5 1.1,0.1 1.2,0.6 0.5-0.7 3.4,0.3 0.5,0.5 0.6-0.8 0.6,0.6 1.6-0.5 0.6,0.5 0.6-0.7 1.6-0.1 1.2,1.3 0.5-1 0.6-0.3 1.1,0.5 1.1-0.2 0.6,0.6 1.1-0.3 0.6-0.7 0.5,0.7 0.6-0.7 1.1,0.9 0.6-1.1 0.5,0.9 1.1-0.7 1.2,0.8 0.5-0.6 1.1,0.6 1.7-0.6 0.6,0.3 1.1-0.5 1.7,0.1 0.5,0.8 0.6-0.8 2.2,0.8 1.2-0.4 0.5,0.3 1.7-0.5 1.1,0.2 0.6-0.4 0.5,0.4 0.6-0.2 0.6,0.4 0.5-0.4 2.3,0.4 1.6-0.6 0.6,0.1 0.6,0.6 0.5-0.6 0.6,0.4 0.5-0.3 1.2,0.5 0.5-0.7 1.7,0.9 2.8-1 0.6,0.5 0.5-0.5 0.6,0.1 1.1,0.8 0.6-0.7 0.5,0 0.6-0.5 1.1,0.5 0.6-0.3 0.5,0.8 0.6-0.4 0.5,0.2 0.6-0.6 0.6,0.3 0.5,1.1 0.6-1.3 0.5,0.6 0.6-0.4 0.6,0.3 1.1-0.3 1.1,0.5 0.6-0.7 2.2,0.5 0.6-0.7 0.5,0.5 1.1,0 1.2,0.4 1.6-0.7 1.2,0.7 0.5-0.5 1.1-0.1 1.2,0.6 0.5-0.7 0.6,0.6 0.5-0.4 0.6,0.6 0.6-0.7 0.5,0.5 1.1-0.7 1.2,0.8 1.1-0.1 0.5-0.4 2.8,0 0.6-0.3 1.7,1 1.7-0.2 1.1-0.7 0.5,0.5 2.3,0 0.5-0.3 2.8,0.1 0.6-0.5 0.6,0.5 0.5-0.2 2.3,0.5 1.6-0.2 0.6-0.4 0.6,0.4 0.5-0.4 1.1,0.1 0.6,0.4 1.1-0.9 0.6,0.5 1.7,0 0.5,0.5 1.7-0.5 0.6,0.3 1.6,0 1.2,0.3 0.5-0.4 0.6,0.5 2.2-0.6 1.7,0.4 1.1-0.4 1.1,0.2 1.7-0.2 0.6-0.4 0.5,0.6 1.2-0.2 1.1,0.4 0.5-0.5 2.8,0.4 0.6-0.3 0.6,0.6 0.5-0.5 0.6,0.4 1.1-0.6 1.1,0.3 0.6-0.3 1.7,0.3 0.5-0.5 1.7,0.7 0.6-0.5 0.5,0.5 0.6-0.5 0.5,0.5 0.6-0.9 0.6,1 0.5-0.8 0.6,0.1 0.5,0.8 1.2-0.9 0.5,0 0.6,0.8 0.5-0.3 1.7,0 0.6-0.7 0.5,0.5 2.3-0.1 0.5,0.4 0.6-0.7 0.6,0.8 1.6-0.8 0.6,0.5 1.1-0.4 3.9,0.3 0.6-0.4 0.6,1 1.1-1 1.1,0.6 1.1-0.5 0.6,0.5 0.5-0.4 1.7,0.2 0.6-0.3 0.5,0.6 1.2-0.5 1.1,0.7 0.5-0.6 2.3,0.4 0.5-1.1 0.6,1.1 1.1,0.1 1.1-0.8 0.6,0.4 0.6-0.2 0.5,0.3 0.6-0.6 1.1,0.9 0.6-0.6 0.5,0.3 0.6-0.3 1.7,0.2 1.1,0.4 0.5-0.7 2.3,0.9 1.1-1 0.6,0.6 1.1,0.2 2.2-0.4 2.8,0 0.6-0.5 1.7,0.7 0.5-0.5 1.1,0.7 1.2-0.6 0.5,0.5 0.6-0.7 1.1,0.8 1.1-0.9 0.6,253.1 0.5-252.3 1.2-0.7 1.1,0.5 2.2-0.7 0.6,0.6 0.5-0.4 0.6,0.5 0.6-0.3 0.5,0.4 1.1-0.4 0.6,0.4 0.6-0.5 0.5,0.4 1.7-0.1 1.7-0.9 0.5,1.2 0.6-0.4 1.1,0.3 0.6-0.3 0.5,0.3 1.2-0.6 0.5,0.9 0.6-0.6 1.1,0.3 0.6-0.4 1.1,0.2 0.5-0.4 0.6,0.7 0.6-0.6 1.1,0.5 1.7-0.5 0.5,0.6 1.1-0.3 0.6-0.5 0.6,0.7 0.5-0.6 0.6,0.8 0.5-0.6 2.8,0.5 0.6-0.8 1.1,0.7 0.6-0.5 0.5,0.4 1.2,0.1 1.1-0.8 0.5,0.8 1.7-0.9 0.6,1.3 0.5-0.7 0.6-0.2 0.6,0.6 0.5-0.5 1.1-0.1 0.6,0.4 0.6-0.3 0.5,0.3 0.6-0.4 1.7,0.6 0.5-0.9 1.7,0.7 1.1-0.7 1.1,0.7 1.2-0.3 1.1,0.3 0.5-0.6 1.7,0.8 1.7-0.7 0.6,0.4 0.5-0.4 1.7,1.1 2.8-1.2 1.1,0.7 0.6-1 0.5,0.6 1.7,0.4 0.6-0.5 1.1-0.3 1.7,0.1 0.5,0.4 1.2,0 0.5,0.3 1.7-0.6 1.1,0.8 1.1-1 0.6,0.9 1.1-0.5 0.6,0.4 1.1-0.4 0.6,0.4 1.1-0.5 0.5,0.5 1.2-0.7 0.5,0.4 1.1-0.3 0.6,0.3 0.6-0.4 1.1,0.6 0.5-0.4 1.2-0.1 0.5,0.4 1.1-0.6 0.6,0.3 1.1-0.3 1.7,0.5 0.6-0.4 1.1,0.4 2.2-0.2 0.6,0.4 1.1-0.4 1.1,0.1 0.6-0.8 1.1,0.8 1.1-0.4 1.1,0.9 1.7-1.1 0.6,1.1 0.5-1 0.6,0.5 2.2-0.4 3.4,0.5 1.1-0.5 0.6,0.7 0.5,0.1 1.2-0.9 1.6,0.1 0.6,0.5 0.6-0.2 0.5,0.8 1.1-0.9 1.2,0.7 2.2-1.3 1.7,1.4 1.1-1 0.6,0.8 3.3-0.8 0.6,0.3 1.1-0.6 0.6,0.9 0.5,0 1.1-0.8 0.6,0.4 0.6-0.2 0.5,0.4 0.6-0.4 0.5,0.5 2.3-0.6 1.1,0.5 0.6-0.4 0.5,0.8 1.1-1.3 0.6,0.6" stroke="#ff7f0e" stroke-width="1.7"/><path d="M1895.5,229l0.6,1.3 0.5-1.2 0.6,1.1 0.5-1.6 0.6,1.9 1.1-1.4 0.6,1.4 0.5-0.3 0.6-1.5 1.1,1.7 0.6-1.8 1.1,1.2 0.6-0.3 1.1,0.4 1.7-1.7 0.5,2.6 1.1,0.1 0.6-1.7 0.6,1.9 0.5-1.6 1.7,0.8 1.1-1.1 0.6,1.6 1.1-2.1 1.1,0.5 1.1-0.1 0.6,1 1.1-1.2 1.7,1.1 0.6-1.8 0.5,2 1.1-0.4 1.2-1.4 0.5,0.9 1.1-1.1 1.7,2.3 0.6-1.5 0.5,0.9 2.3-1.2 0.5,1.8 0.6-1.2 1.1,0.6 0.6-0.9 0.5,0.5 0.6-0.9 1.7,1.2 1.1,0.2 0.6-1.6 1.1,1.4 0.5-0.8 0.6,0.3 0.6-1.3 0.5,2.1 0.6-0.6 1.1-0.1 1.1,1.1 1.1-1.4 0.6,1.2 0.6,0.2 1.6-1 0.6,1.1 1.1-1.2 0.6,0.7 1.1-0.1 1.1-1.3 0.6,1.7 0.5-2.4 0.6,2.2 1.1-1.3 1.7,1.1 0.6-1.5 0.5,1.6 0.6,0.3 1.7-1.6 0.5,0.7 1.1-0.1 1.7,0.7 1.1-1.5 1.7,1.5 1.1-1.3 1.7-0.2 1.1,1.5 1.2-1.2 1.1,0.7 1.1-0.6 0.6,1.1 0.5-0.9 1.1,0.5 0.6-1.4 0.6,1.9 1.1-1.9 0.5,0.9 1.2,0.5 1.1-0.3 1.1-2 0.6,1.9 0.5-0.8 0.6,0.7 1.1-0.2 0.6,1.2 0.5-1.4 0.6,0.2 0.5-0.8 0.6,0.8 1.1-0.2 0.6,1.5 0.5-0.2 0.6-1.2 1.1,1.1 1.1,0 1.2-1.6 0.5,1.2 0.6-0.9 1.1,1 0.6-1.6 1.1,0.9 0.5-2 0.6,1.4 0.6-0.1 0.5,2.6 1.1-2.2 0.6,0.4 2.2-0.9 1.7,0.6 0.6-1.2 1.1,1.8 0.6-0.6 1.1,1.1 0.5-1.1 1.7,0.4 1.1-0.8 0.6,0.8 1.1-0.9 1.1,1.4 0.6-0.4 0.6,0.4 0.5-0.2 0.6-3.2 0.5,3.9 0.6-1.3 1.1,0.3 0.6,0.7 0.5-1.3 0.6,1.4 0.6-0.2 0.5,0.8 0.6-1.3 1.1-0.2 0.6,0.5 1.6-0.7 0.6,0.8 2.2-0.7 0.6,0.7 0.6-0.7 1.6-0.2 0.6,0.4 0.6-0.6 0.5,0.5 1.1,0 0.6,1.5 1.1-1.7 0.6,0.6 0.5-1.3 0.6-0.2 1.1,1.5 0.6-0.9 0.5,0.1 0.6,0.9 1.1-0.8 1.7,0.9 1.1-0.8 1.7,0 1.1-1.2 1.1,2.2 1.2-1.9 1.1,1.8 0.5-1.7 0.6,1.7 1.1-1.3 1.1,1.2 0.6-1.2 0.6,0.7 0.5-0.5 1.1,1.5 1.7-2.6 0.6,1 1.7,0.4 0.5,1.1 0.6-1.8 0.5,1.2 0.6-0.3 0.6,1.5 1.6-4.5 0.6,2.7 2.2-0.6 0.6,0.7 2.2-1.3 1.2,1.1 0.5-0.1 0.6-1 0.5,2.1 0.6-2.1 0.6,0.4 0.5-0.4 0.6,1.2 1.1-0.4 1.1,1.2 1.1-2.5 0.6,1.3 1.7,0.7 0.5,1.2 0.6-1.4 1.1,0 0.6,0.6 0.5-2.3 0.6,0.2 1.1,2.2 0.6-1.3 1.1,1.3 0.6-0.1 0.5-1.8 1.1,1.6 0.6-1.4 0.6-0.3 1.1,1.3 1.1-1.9 1.1,1.9 0.6-0.8 0.5,2.1 0.6-1.7 0.6,1 0.5-1 0.6,0.3 0.5-0.8 0.6,1 0.6-0.9 1.1,0.8 1.1-0.8 0.6,1.3 1.1-1.6 0.5,1.1 1.2-1.5 0.5,1.8 1.1,1.1 0.6-1.6 1.7-0.9 0.5,1.1 1.2,0.4 1.6-1.8 1.2,1.7 1.1-1.9 0.5,1.7 0.6-0.1 0.6-1.1 1.1,0.7 0.5-1.7 0.6,1.4 1.1,0.8 0.6-0.9 0.5,0.2 0.6-0.6 0.6,1 1.1-0.1 0.5-0.7 0.6,1.5 0.6-1.6 1.1,0.6 0.5,2 1.2-2.6 1.1,0.4 0.5,0.7 0.6-0.6 0.6,1.3 1.1,0.3 0.5-1.9 0.6,0.1 0.6-0.7 1.1,1.9 1.1-1.7 1.7,1.2 1.1-0.4 0.6,0.5 1.6-1.3 0.6,2.2 0.6-2.6 0.5,1.2 0.6-0.3 0.5,0.9 0.6-0.3 0.6,1.2 0.5-2.3 0.6,1.4 0.5-1.2 0.6,1 0.6-0.2 1.1-0.3 0.5-1.1 0.6,1.4 1.1-1.4 0.6,1.6 0.5-1.5 0.6,1.8 0.6-1.6 0.5-0.2 0.6,2.6 0.5-2.4 1.7,1.2 1.7-0.4 0.6-0.8 1.1,1.9 1.1,0.2 0.6-1.8 1.1,1.5 0.5-2.4 0.6,1.1 1.1,0.6 0.6-0.9 1.1,2 0.6,0.1 1.1-1.8 0.5-0.1 1.2,1.2 0.5-2.1 1.1,1.5 2.3-0.8 3.9,1.3 0.6-1 2.8,0.3 0.5-0.7 1.1,1.4 1.2-2 0.5,0.7 1.1-0.9 1.2,1.6 0.5-1.4 0.6,2.4 0.5-1.2 1.2,1.7 0.5-0.2 0.6-2.4 1.7,0.2 0.5,1.9 0.6-1.5 0.5,0.6 1.2,0 0.5-0.5 0.6,0.6 0.5-1.2 1.7,1.1 0.6-1.2 0.5,0.5 0.6-0.4 1.1,1.4 1.1,0.2 0.6-1.4 1.7,0.8 1.1-1.8 1.7,2.5 1.7-2.2 1.1,1.6 0.5-0.3 0.6,0.3 0.6-1.7 0.5,0.9 0.6-0.5 0.5,0.6 0.6-0.4 1.7,1.7 0.5-2.5 0.6,0.2 0.6,1.2 0.5-0.2 0.6-1.2 0.5,2.3 0.6-1.5 1.1,1.7 1.1-1.2 0.6,0.2 0.6-0.5 0.5,0.6 1.7-1.4 0.6,0.8 1.1,0.2 0.5,1.2 1.2-1.5 0.5-0.1 0.6,0.7 0.5-0.9 0.6,1 0.6-0.9 0.5,2.4 0.6-1.8 1.7-0.8 0.5,0.9 1.7-0.9 0.6,1.9 1.1-1.6 0.5,0.6 0.6-0.6 0.6,1.4 0.5-1.4 1.7,1.5 0.6-0.7 0.5,0.6 1.1-0.8 1.7,1.4 2.3-3.8 0.5,2.4 0.6,0.4 1.1-1.3 0.6,1.2 0.5,0.2 0.6-1.4 1.1,1.5 0.6-0.1 0.5-1 0.6,1.3 0.5-1.3 0.6,0.3 0.6-1.2 0.5,0.5 0.6,1.9 0.5-2.2 0.6,1.5 0.6-1.9 1.1,1.7 0.5-1.2 1.2,1.5 0.5-1.2 1.1,0 0.6,0.7 0.6-0.8 1.1,0.4 0.5-0.4 0.6,0.7 0.6-0.8 0.5,0.8 0.6-1.5 0.5,1.3 0.6-0.9 0.6,0.9 1.1,0.4 1.1-0.8 0.6,1.1 0.5-0.3 0.6-1.5 0.5,0 1.2,1.5 0.5-1 0.6-0.1 0.5,0.7 0.6-0.5 0.6,1.1 1.1-0.7 0.5,2.2 1.2-3 0.5,1.8 0.6,0.2 0.5-0.6 0.6,2 1.1-3 0.6,1.9 0.5-1.7 0.6,0.4 0.6-0.9 0.5,1.7 1.7-1.1 1.1,1.5 1.7-2.9 1.1,0.5 1.1,1.5 0.6-1.1 0.6,1.4 1.1-1.3 0.5,0.5 0.6-0.6 0.6,0.3 0.5-0.4 0.6,0.5 0.5-1.9 0.6,2.2 1.1,0.9 0.6-1.5 0.5-0.1 0.6,1.3 0.6-1.4 1.1-0.6 1.1,1.7 1.1-0.5 0.6,0.8 1.1-0.8 0.6-1.3 0.5,1.9 0.6-1.4 1.1,1.2 0.6-1.4 0.5,0.9 0.6-0.3 0.5,0.3 0.6-0.7 1.7,2 0.5-1.3 0.6,0.3 0.6-0.4 0.5,1.4 0.6,0 0.5-2 1.2,1.8 0.5-1.3 0.6,0.5 0.5-1.1 0.6,1.3 0.6-1.2 0.5,0.7 1.1-0.9 0.6,2.3 0.6-1.8 1.1-0.1 0.5,1.6 1.2-1.4 1.6,1 0.6-0.9 0.6,0.7 0.5-1.1 0.6,0.1 1.1,2.1 0.6-2.6 0.5-0.3 1.1,0.8 0.6,1.5 0.6-2.2 1.6,1.2 0.6-0.3 0.6,0.9 0.5-1.4 1.7,1.4 1.1-1.4 0.6,0.9 1.1-1.1 1.1,0.8 1.1-0.7 1.2,0.5 0.5,1.2 0.6-1.5 1.1,1.6 1.1-1.3 0.6,1.8 0.5-1.6 0.6-0.2 0.6,0.8 0.5,0 0.6-0.8 1.1,1.5 1.1-2.6 0.6,1.3 1.1,0.8 0.6-0.8 0.5,1 0.6-0.6 0.5,0.5 0.6-0.6 0.6,0.4 0.5-1.8 1.1,1.3 1.2,0.1 1.1-0.6 0.5,1 1.2-1.2 1.1,0.3 0.5,1.1 1.2-2.1 0.5,1.3 0.6-0.1 1.1,0.6 0.6-0.9 1.6-0.5 0.6,2 0.6-1.4 1.1,1.5 1.1-1.9 0.6,1.3 1.1,0.2 0.5-0.9 0.6,0.7 1.1-1.3 0.6,1 0.5-1.7 1.2,2.3 0.5,0.1 0.6-2.1 0.5-0.3 0.6,1.2 0.6,0.1 0.5-0.7 0.6,1.7 1.7-1.4 2.2,1.3 0.6-0.9 1.1,0.6 1.1-1.7 1.1,0 2.3,2.5 0.5-2.9 1.1,1.2 1.7-0.3 0.6,0.6 0.5-0.6 0.6,1.2 1.7-1.3 1.1,1.1 0.6-1 1.1,2 0.5-1.4 0.6,1.3 0.6-0.9 1.1-0.5 0.5-1.6 0.6,1.6 0.6-0.5 1.1,2.2 0.5-2 0.6,0.7 0.6-1.2 1.1,2 0.5-2.1 1.2,1 1.1-0.2 1.1-1.2 0.6,2.1 0.5-1.9 0.6,1.7 0.5-1.6 1.2,1.2 0.5-1 0.6,1.4 0.5-0.5 0.6,0.2 0.6-0.9 1.1-0.5 1.1,1.7 0.6-2.7 1.1,0.8 0.5,1.2 1.2-0.3 0.5-0.8 0.6,1.6 0.5-0.1 0.6-1.2 0.6,0.7 0.5-1.7 0.6,1.6 1.1-0.9 1.1,0.6 1.1,1.9 0.6-3.1 0.6,2.1 0.5,0.1 0.6-0.9 0.5,1 0.6,0.1" stroke="#2ca02c" stroke-width="2.1"/><path d="M1895.5,554l2.2-0.5 0.6,0.3 0.6-0.1 1.1,0.3 1.7-0.8 1.1,0.8 0.5-0.4 0.6,0.3 0.6-0.6 0.5,1.1 1.7-0.6 1.7,0.6 1.1-1.1 0.6,0 0.5,0.6 0.6-0.3 1.1,0.7 0.6-0.9 1.1,0.5 1.1-0.4 1.1,0.4 0.6-0.2 1.7,0.3 0.5-0.5 1.1,0.7 0.6-1 2.2,0.5 0.6,0.6 0.6-0.5 1.6-0.2 0.6,0.5 0.6-0.4 0.5,0.6 0.6-0.5 1.1,0.4 1.1-0.4 0.6,0.2 0.5-0.5 0.6,0.5 0.6-0.5 1.1,0.5 0.5-0.7 0.6,1 0.6-0.7 1.1-0.1 0.5,0.8 2.3-0.5 2.2,0.5 1.7-0.8 0.6,0.5 0.5-0.6 0.6,0.9 0.5-0.8 0.6,0.7 0.6-0.5 1.1,0.4 1.1-0.8 0.6,0.7 0.5-0.4 2.3,0 0.5,0.6 1.1-0.5 0.6,0.3 0.6-0.3 0.5,0.5 0.6-0.6 0.5,0.4 1.7-0.6 0.6,0.6 0.5,0 0.6-0.5 0.6,1.3 0.5-1.4 0.6,0 0.5,0.8 0.6-0.8 1.1,0.3 0.6,0.9 0.5-0.6 2.3-0.1 0.5,0.9 0.6-0.9 1.7,0.1 1.1-0.3 0.6-0.5 0.5,0.9 0.6-0.9 0.5,0.7 1.2,0.4 0.5-0.8 0.6,0.8 0.5-0.8 1.7,0.5 0.6-0.3 1.1-0.1 1.1,0.4 0.6-0.4 0.5,0.6 0.6-0.7 1.1,0.7 1.1-0.3 0.6,0.5 0.6-1.1 0.5,0.2 0.6,0.7 1.1-1 1.7,1.3 0.5-0.1 0.6-1 1.1,0.9 0.6-0.7 1.1,0.4 1.1,0 0.6-0.8 0.5,0.9 1.7-0.8 0.6,0.8 0.5-1 1.2,1.2 0.5-1.1 0.6,1.1 0.5-0.7 1.2,0.8 0.5-0.9 3.4,0.7 0.5-0.6 2.3,0.3 0.5,0.4 0.6-0.4 0.6,0.3 0.5-0.8 0.6,0.7 1.7-0.6 1.1,0.3 0.5-0.7 0.6,0.7 0.6-0.1 0.5-0.8 0.6,1.2 0.5-0.6 1.2,0.8 1.1-0.8 0.5,0.8 1.2-0.8 0.5,0.4 2.3,0.1 1.1-0.4 0.5,0.2 0.6-0.7 1.1,0.6 0.6-0.7 1.1,1.1 0.6-0.3 0.5,0.4 1.1-0.9 1.2,0.7 1.6-0.6 0.6,0.6 0.6,0 0.5-0.6 0.6,0.3 1.1-0.1 0.6,0.5 1.1-0.6 0.5,0.4 1.7-0.2 0.6-0.8 0.5,1.2 1.2-1 0.5,0.7 0.6-0.1 0.5,0.6 0.6-0.8 1.7,0.4 2.8-0.4 0.5,0.8 0.6-0.4 0.6,0.9 0.5-0.9 0.6-0.4 0.5,0.4 0.6-0.9 0.6,1.2 2.2-0.2 0.6,0.3 0.5-0.2 0.6-1 0.5,0.8 0.6-0.4 0.6,0.7 1.1-0.6 1.1,0.4 2.2-0.6 1.2,1.1 0.5-0.6 1.7-0.5 0.6,0.6 0.5-0.9 1.1,1.3 0.6-0.9 1.1,0.2 0.6,0.7 0.5-0.5 2.8-0.6 1.2,0.6 0.5-0.7 0.6,0.5 0.5-0.2 1.7,1.1 0.6-0.8 0.5,0.2 1.2-0.5 0.5,0.8 0.6,0.1 0.5-0.7 0.6,0 1.7,0.7 0.5-0.6 0.6,0.3 1.1-0.6 0.6,0.5 2.2-0.7 1.7,0.2 0.6,0.5 2.8-1 0.5,1.2 0.6-0.4 0.5,0.6 0.6-0.4 0.6,0.4 0.5-1 1.1,0.8 1.7-1 1.1,0.6 1.2-0.2 1.6,0.6 0.6-0.7 0.6,0.6 1.1-0.6 0.5,0.3 0.6-0.4 0.6,0.8 0.5-0.6 0.6,0.7 0.5,0 1.2-0.5 1.1,0.5 0.5-0.9 0.6,0.7 1.1-0.4 2.3,0.1 0.5-0.3 1.1,0.7 0.6-0.5 0.6,0.4 0.5-0.4 1.1,0.3 1.2-0.4 0.5,1.2 0.6-0.9 1.1-0.3 1.1,0.6 1.1-0.6 0.6,0.9 1.1-0.5 0.6,0.7 1.1-1.2 0.6,0.7 0.5-0.4 0.6,0.3 1.7-0.7 0.5,0.4 0.6-0.3 1.1,0.5 0.6-0.7 0.5,0.7 1.1-1 1.2,1.1 0.5-0.4 1.1,0.2 0.6,0.4 0.6-0.6 0.5,0.6 0.6-0.6 1.1-0.2 0.6-0.4 0.5,1.3 1.7-0.4 0.6-0.5 1.6,0.7 1.7-0.3 0.6,0.4 1.1-0.7 1.1,0.6 0.6-0.7 1.1,0.2 0.6,0.5 0.5,0.1 0.6-0.5 1.1,0.5 0.6-0.8 1.6-0.1 0.6,0.1 0.6,0.7 0.5-0.8 0.6,0.4 1.1-0.5 0.6,0.4 0.5-0.4 1.1,0.6 1.2,0 0.5,0.5 0.6-0.6 1.1,0.2 0.6,0.6 0.5,0 0.6-1 0.5,0.5 0.6-0.8 0.6,0.8 0.5-0.4 0.6,0.6 2.2-1.1 1.1,1.1 0.6-0.5 1.1,0.2 1.1-0.7 0.6,0.7 1.1-0.7 0.6,0.9 0.5-1 1.2,0.5 0.5-0.5 0.6,0.5 0.5-0.3 0.6,0.2 0.6,0.5 0.5-0.4 1.7,0.5 1.1,0 0.6-0.8 0.5,1.1 0.6-0.7 1.1,0.4 0.6-0.6 0.5,0.5 0.6-0.7 0.6,0.5 2.2-0.4 0.6,0.5 1.1-0.8 0.5,0.8 0.6-0.8 0.6,0.8 2.2,0.4 1.1-0.8 1.7,0.6 1.7,0.1 0.5-1.2 1.2,1 1.1-0.8 0.5,0.7 0.6-0.1 1.1,0.5 1.1-1.8 0.6,1.5 0.6,0.3 0.5-1.1 1.1,0.4 0.6-0.4 0.6,0.6 1.1-0.4 0.5,0.4 0.6-0.2 1.7,0.1 0.5,0.7 0.6-0.7 0.6,0.5 0.5-0.2 0.6,0.3 0.5-0.9 1.2,0.4 0.5-0.5 1.7,1.1 0.6-0.9 1.1,0.3 0.5-0.3 0.6,0.4 1.1-0.5 1.1,0.5 0.6-0.7 1.1-0.1 0.6,0.6 1.1-0.3 2.8,0.5 1.1-0.3 1.1,0.6 1.2-1.1 0.5,0.1 0.6,1.2 1.1-1 2.2,0.3 0.6,0.4 0.6-0.8 0.5,0.8 1.1-0.9 2.3,0.7 1.1-0.1 0.6-0.5 0.5,0.6 0.6-0.4 1.7,0.3 0.5-0.3 1.7,0.4 0.6,0.5 0.5-0.9 1.1,0.4 1.2-0.3 0.5,0.4 0.6-0.5 1.7-0.1 0.5,1 0.6-0.9 0.5,0.4 0.6-0.6 0.6,0 1.1,0.4 0.5-1 0.6,1 0.6,0.4 0.5-0.7 0.6,0.8 0.5-1.2 2.3,0.6 0.5,0.6 1.2-0.7 2.2,0.5 1.1-0.6 1.7,0.9 0.6-1.3 0.5,1.1 1.1-0.1 0.6-0.6 0.6,0.6 0.5-0.5 1.1,0.6 0.6-0.4 0.6,0.4 1.1-0.6 1.1,0.5 1.7-0.4 0.5,0.9 0.6-0.2 0.6-0.8 2.8,0.4 1.1-0.4 1.7,0.6 0.5-0.5 0.6,0.5 2.2-0.8 2.8,0.5 0.6-0.7 1.7,0.9 0.5-0.7 0.6,0.7 1.7-0.6 0.5,0.6 0.6-0.4 1.7-0.3 1.1,0.5 0.5-0.4 0.6,0.8 0.6-0.5 0.5,0.3 1.7,0.3 0.6-0.9 1.1,0.3 0.5-0.3 1.7,0.7 0.6-0.6 1.1-0.2 0.6,0.7 0.5-0.2 0.6,0.4 0.5-0.9 2.8,0.5 0.6-0.5 0.6,0.6 0.5-0.5 1.7,0.8 1.1-0.5 0.6,0.4 1.1-0.8 1.7,1.2 0.5-1.1 0.6-0.2 0.6,0.6 0.5-0.3 1.1,0.4 0.6-0.5 0.6,0.5 1.1-0.8 0.5,0.7 0.6-0.7 0.6,1.1 0.5-0.8 0.6,0.3 0.5-0.9 1.2,1.2 0.5-0.8 0.6,1 0.5-0.6 0.6,0.4 0.6-0.8 0.5,0.5 0.6-0.3 1.7,1 0.5-1.3 1.1,1 1.2-0.7 0.5,0.8 0.6-1.3 0.5,0.9 0.6,0 0.6-0.5 1.1,0.8 0.5-0.7 1.2-0.1 0.5,0.7 0.6,0.1 0.5-0.6 1.2,1 1.1-1 0.5,0.5 0.6-0.7 0.6,0.6 0.5-0.2 0.6,0.6 2.8-0.9 0.5,1.1 0.6-0.8 1.1,0.4 0.6-0.4 0.5,0.3 0.6-0.4 0.6,0.2 0.5-0.3 0.6,0.5 0.5-0.7 0.6,0.3 0.6-0.5 0.5,0.7 1.1-0.1 1.2,0.4 0.5-0.4 2.3,0.4 0.5-0.4 0.6,0.5 0.5-1.1 0.6,0.6 0.6-0.3 0.5,0.7 0.6-0.5 0.5,0.2 0.6-0.4 0.6,0 0.5,0.9 0.6-1 0.5,0.9 0.6-0.9 1.1,0.8 0.6-0.6 1.1,0.6 1.1-0.5 0.6,0.6 0.5-0.2 0.6-0.9 0.6,0.9 0.5-0.4 1.7-0.2 0.6,1.2 1.1-1.3 0.5,0.7 0.6-0.9 1.1,1 1.1-1.1 0.6,0.9 0.6-0.4 0.5,0.5 1.7-0.5 1.1,0.1 0.6-0.7 0.5,1.2 0.6,0.3 0.6-0.9 1.1,0.7 0.5-1.1 1.2,1.1 1.6-1.3 0.6,1.3 2.2-0.5 1.2,0.6 1.1-0.8 0.5-0.1 0.6,0.5 0.6-0.4 1.1,0.4 1.1-0.2 0.6-1 1.1,1.3 1.1-0.1 0.6-0.6 0.5,1.2 1.1-1.1 1.2,0.3 0.5-0.2 0.6,0.7 0.5-0.6 1.2,0.6 0.5-0.7 0.6,0.5 1.1-0.5 0.6,0.6 1.1-1.2 0.5,0.9 0.6-0.4 0.6,0 0.5,0.8 0.6,0 0.5-0.5 0.6,0.8" stroke="#d62728" stroke-width="1.7"/><path d="M1895.5,446.9l0.6,32.3 0.5-16.4 1.1,2.7 0.6,0.2 0.6-3.1 0.5,0.5 0.6-0.7 0.5,1.1 0.6-11.6 0.6,3.2 0.5,8.3 1.1,0.2 3.4-0.3 2.2,0.4 0.6-0.3 2.2,0.1 0.6,0.3 0.6-0.3 1.6,0.1 1.7-0.3 2.3,0.4 4.4-0.3 1.2,0.4 0.5-0.3 2.3,0.3 1.1-0.4 0.5,0.2 0.6-0.3 1.7,0.4 0.5-0.3 1.2,0.3 1.1-0.3 1.7,0.4 1.1-0.4 2.8,0.3 2.8-0.4 1.1,0.2 5.6-0.2 0.6,0.4 2.8-0.4 5.6,0.4 3.3-0.3 0.6,0.3 1.7-0.4 5,0.4 5.6-0.3 3.4,0.3 0.5-0.3 1.7,0.3 0.6-0.2 0.5-30.3 1.1,30.1 4.5,0.4 1.1-0.3 0.6,0.2 6.7-0.2 2.3,0.2 1.1-0.3 6.7,0.3 0.6-0.5 0.5,0.4 0.6-0.2 0.5,0.4 1.2-0.3 0.5,0.2 5.6-0.3 1.1,0.4 1.2-0.3 1.1,0.2 1.1-0.3 2.2,0.3 0.6-0.4 0.6,0.3 1.6-0.1 1.2,0.4 1.6-0.6 1.2,0.4 10.6-0.3 1.1,0.3 1.1-0.2 0.6,0.1 0.6-0.3 0.5,0.5 0.6-0.4 1.7,0.3 0.5-0.3 2.8,0 4.5,0.4 1.1-0.3 2.8,0.3 3.4-0.4 1.7,0.4 2.2-0.3 0.6,0.4 3.9-0.6 2.2,0.5 2.8-0.4 4.5,0.4 1.1-0.4 1.1,0.4 1.7-0.3 3.4,0.2 0.5-0.3 0.6,0.3 4.5-0.3 2.2,0.2 0.6-0.3 3.9,0.4 3.4-0.4 2.8,0.4 1.1-0.3 3.3,0.4 1.2-0.3 1.1,0.3 1.1-0.4 0.6,0.4 1.6-0.3 2.8,0.3 3.4-0.5 1.7,0.3 0.5-0.3 1.2,0.3 5-0.1 1.1,0.4 2.3-0.5 1.1,0.4 1.7-0.3 2.8,0.4 1.6-0.4 2.8,0 1.2,0.4 0.5-0.6 1.1,0.3 0.6-0.3 0.6,0.5 1.1-0.1 0.5-0.2 0.6-15.5 0.6,1.5 0.5,14.2 0.6-0.3 2.2,0.4 1.7-0.5 1.1,0.5 1.1,0 0.6-0.4 6.2,0.5 0.5-0.5 2.8,0.3 2.8-0.3 0.6,0.5 2.8-0.4 1.1,0.3 3.9-0.2 0.6-0.3 0.5,0.3 2.8-0.2 0.6,0.5 1.1-0.6 2.8,0.4 1.7-0.2 2.8,0.3 0.6-0.4 1.1,0.2 5-0.1 0.6,0.3 1.7-0.3 0.5,0.4 3.4-0.4 3.3,0.4 0.6-0.7 1.7,0.7 3.9-0.4 2.8,0.3 1.7-0.4 2.8,0.3 0.5-0.3 1.2,0.4 3.3-0.5 1.1,0.6 1.2-0.3 0.5,0.4 1.1-0.5 1.7,0.2 0.6-0.3 1.1,0.3 9.5-0.4 0.6,0.4 1.7-0.2 1.1,0.3 2.2-0.3 1.1,0.2 1.7-0.3 1.7,0.4 5-0.3 2.3,0.3 0.5-0.3 0.6-24.9 0.6,39.1 0.5,15.6 0.6-3.7 0.5-25.8 1.2-0.3 0.5,0.3 0.6-0.4 1.1,0.4 0.6-0.4 0.5,0.3 0.6-0.3 0.5,0.6 0.6-0.7 2.2,0.5 0.6-0.3 2.2,0.3 4-0.4 1.1,0.3 0.5-0.4 0.6,0.5 1.7-0.4 1.1,0.4 6.2,0 0.5-0.4 0.6,0.4 1.7-0.4 1.1,0.4 1.7-0.3 3.3,0.1 0.6,4.7 0.5-4.6 1.2-0.4 2.8,0.5 6.7-0.4 6.7,0.4 1.7-0.4 0.5-13.2 0.6,2.5 0.6,10.8 2.2,0.4 0.6-0.4 3.9,0.1 1.7-0.3 0.5,0.4 1.1,0 1.2-0.4 0.5,0.4 1.7-0.2 1.1,0.3 1.1-0.3 3.4,0.3 3.4-0.3 5.6,0.3 2.2-0.3 0.6,0.4 1.6-0.4 1.2,0.2 2.2-0.4 2.2,0.4 1.2-0.3 0.5,0.5 0.6-0.5 0.5,0.3 0.6-0.3 2.2,0.3 0.6-0.4 0.6,0.4 11.7-0.2 0.6,0.4 2.2-0.4 3.4,0 0.5,0.4 1.2,0 3.3-0.4 3.4,0.4 0.5-0.4 4,0.3 2.2-0.3 3.4,0.2 6.7-0.2 0.5,0.3 1.7-0.4 1.1,0.4 2.8-0.3 3.4,0.3 1.7-0.3 1.7,0.2 0.5-0.2 1.7,0.2 2.2-0.2 2.8,0.4 0.6-0.3 0.6,0.2 4.4-0.4 0.6,0.3 3.4-0.3 0.5,0.2 2.3-0.1 0.5,0.4 0.6-0.4 0.5,0.3 3.4-0.5" stroke="#9467bd" stroke-width="1.4"/><path d="M1895.5,476.5l4.5,0.3 1.1-0.2 1.1,0.4 1.7-0.5 6.2,0.1 0.5,0.3 1.1-0.3 9,0.2 0.6-0.3 1.1,0.3 4.5-0.2 1.6,0.3 0.6-0.4 0.6,0.3 2.8,0 1.6-0.4 1.7,0.5 2.3-0.5 1.6,0.6 1.2-0.4 1.1,0.3 1.1-0.4 2.2,0 0.6,0.5 1.1-0.6 2.3,0.5 2.2-0.4 3.4,0.2 0.5-0.3 0.6,0.5 1.1-0.4 1.1,0.4 3.9-0.4 0.6,0.4 0.6-0.4 1.6,0.2 0.6-0.3 0.6,0.5 0.5-0.4 3.4,0 0.5,0.2 0.6-0.3 2.2,0.4 7.3-0.2 1.1,0.3 0.6-0.4 2.8,0.3 3.9-0.4 2.3,0.4 1.1-0.3 0.5,0.3 2.3-0.3 0.5,0.2 0.6-0.2 1.7,0.4 0.5-0.4 1.7,0.3 1.1-0.3 3.4,0.4 1.1-0.4 1.7,0.2 1.7-0.2 2.2,0.3 12.3-0.2 3.4,0.5 0.6-0.5 6.1,0.1 1.1-0.3 5.1,0.5 1.1-0.5 1.1,0.5 2.8-0.4 1.7,0.3 5-0.3 1.2,0.4 2.8-0.5 2.2,0.4 5.6-0.3 1.1,0.1 0.6,0.5 1.1-0.6 1.1,0.2 1.1-0.3 0.6,0.4 5-0.2 0.6,0.3 1.7-0.3 1.7,0.2 2.2-0.4 1.1,0.4 0.6-0.4 3.9,0.4 2.8-0.2 0.6,0.3 2.8-0.5 1.6,0.5 0.6-0.5 1.7,0.3 7.3-0.2 3.3,0.4 0.6-0.4 2.2,0 0.6,0.4 0.5-0.4 0.6,0.4 2.8-0.3 3.4,0.3 0.5-0.4 0.6,0.3 2.2-0.2 2.8,0.3 1.1-0.4 0.6,0.3 1.1-0.4 0.6,0.4 1.7-0.2 0.5,0.4 0.6-0.4 1.7,0 0.5,0.4 2.3-0.5 5,0.4 2.2-0.4 1.2,0.4 0.5-0.3 1.1,0.2 0.6-0.4 1.1,0.4 1.7-0.3 1.1,0.3 1.1-0.4 0.6,0.5 1.1-0.4 1.7,0.3 3.4-0.3 1.6,0.2 0.6-0.3 2.2,0.2 0.6,0.4 0.6-0.3 2.8-0.3 1.6,0.6 1.2-0.5 2.2,0.2 2.8-0.3 3.4,0.5 3.3-0.4 0.6,0.3 1.1-0.5 2.2,0.5 2.8-0.4 0.6,0.4 1.7-0.3 1.1,0.3 7.3-0.3 0.5,0.3 6.2-0.3 2.2,0.4 2.3-0.4 1.1,0.3 1.1-0.3 2.8,0.3 1.7-0.4 3.4,0.4 1.6-0.3 2.8,0.3 0.6-0.4 0.6,0.4 3.9-0.2 1.1,0.3 3.4-0.4 1.1,0.2 0.5-0.2 3.4,0.3 0.6-0.4 1.1,0.5 5-0.4 0.6,0.3 0.5-0.4 0.6,0.4 0.6-0.3 1.6,0.3 0.6-0.3 1.7,0.5 1.7-0.4 2.2-0.1 1.7,0.5 0.5-0.4 1.2,0.3 1.6-0.3 0.6,94.9 0.6,0 0.5-94.9 1.7-0.2 0.6,0.4 1.6-0.3 3.4,0.3 3.4-0.3 2.8,0.2 1.1-0.3 1.1,0.3 1.1-0.3 0.6,0.3 1.1-0.2 1.7,0.3 1.7-0.3 1.1,0.3 3.9-0.4 1.7,0.5 1.7-0.4 2.2,0.3 2.2-0.4 4.5,0.4 0.6-0.3 2.2,0.3 1.7-0.4 0.6,0.5 2.2-0.5 1.7,0.4 2.2-0.4 1.1,0.5 1.2-0.5 0.5,0.3 1.7-0.1 0.6,0.4 1.1-0.3 1.1,0.2 0.6-0.3 1.6,0.3 0.6-0.3 1.7-0.1 2.8,0.4 0.5-0.3 3.4,0 1.1,0.3 1.7-0.4 2.2,0.4 0.6-0.4 5,0.4 0.6-0.4 1.7,0.4 0.5-0.4 3.4,0.4 2.2-0.4 9.6,0.3 1.1-0.3 8.4,0.3 1.7-0.3 0.5,0.3 2.3,0 0.5-0.4 1.1,0.6 0.6-0.4 5.6,0.2 2.2-0.4 4,0.4 6.1-0.4 2.8,0.3 2.3-0.2 2.8,0.4 1.1-0.4 1.1,0.5 0.6-0.5 2.8,0 1.1,0.4 1.1-0.4 6.7,0.3 1.7-0.4 2.2,0.4 4-0.2 0.5,0.2 0.6-0.2 1.7,0.3 1.6-0.5 1.2,0.5 0.5-0.3 1.1,0.3 1.7-0.4 1.7,0.4 0.6-0.5 3.3,0.4 2.3-0.3 1.1,0.2 0.5-0.3 1.7,0.5 0.6-0.4 1.1,0.2" stroke="#8c564b" stroke-width="1.5"/><path d="M1896.1,422.2l4.2,4.2l-4.2,4.2l-4.2,-4.2zM1898.3,422.9l4.2,4.2l-4.2,4.2l-4.2,-4.2zM1901.1,422.1l4.2,4.2l-4.2,4.2l-4.2,-4.2zM1903.3,422.8l4.2,4.2l-4.2,4.2l-4.2,-4.2zM1905.0,422.8l4.2,4.2l-4.2,4.2l-4.2,-4.2zM1907.8,422.5l4.2,4.2l-4.2,4.2l-4.2,-4.2zM1910.6,423.1l4.2,4.2l-4.2,4.2l-4.2,-4.2zM1912.9,422.8l4.2,4.2l-4.2,4.2l-4.2,-4.2zM1913.4,423.0l4.2,4.2l-4.2,4.2l-4.2,-4.2zM1919.0,422.3l4.2,4.2l-4.2,4.2l-4.2,-4.2zM1924.6,422.5l4.2,4.2l-4.2,4.2l-4.2,-4.2zM1931.9,423.0l4.2,4.2l-4.2,4.2l-4.2,-4.2zM1932.5,422.5l4.2,4.2l-4.2,4.2l-4.2,-4.2zM1950.4,422.7l4.2,4.2l-4.2,4.2l-4.2,-4.2zM1968.9,423.2l4.2,4.2l-4.2,4.2l-4.2,-4.2zM1986.8,422.5l4.2,4.2l-4.2,4.2l-4.2,-4.2zM1987.3,422.6l4.2,4.2l-4.2,4.2l-4.2,-4.2zM1987.9,422.6l4.2,4.2l-4.2,4.2l-4.2,-4.2zM2005.8,422.0l4.2,4.2l-4.2,4.2l-4.2,-4.2zM2024.3,422.4l4.2,4.2l-4.2,4.2l-4.2,-4.2zM2042.8,423.2l4.2,4.2l-4.2,4.2l-4.2,-4.2zM2043.3,422.5l4.2,4.2l-4.2,4.2l-4.2,-4.2zM2061.3,422.9l4.2,4.2l-4.2,4.2l-4.2,-4.2zM2079.7,422.5l4.2,4.2l-4.2,4.2l-4.2,-4.2zM2098.2,422.7l4.2,4.2l-4.2,4.2l-4.2,-4.2zM2098.8,422.3l4.2,4.2l-4.2,4.2l-4.2,-4.2zM2116.7,422.9l4.2,4.2l-4.2,4.2l-4.2,-4.2zM2135.2,422.4l4.2,4.2l-4.2,4.2l-4.2,-4.2zM2153.7,421.8l4.2,4.2l-4.2,4.2l-4.2,-4.2zM2154.2,422.4l4.2,4.2l-4.2,4.2l-4.2,-4.2zM2172.1,422.6l4.2,4.2l-4.2,4.2l-4.2,-4.2zM2190.6,422.9l4.2,4.2l-4.2,4.2l-4.2,-4.2zM2209.1,422.5l4.2,4.2l-4.2,4.2l-4.2,-4.2zM2209.7,423.3l4.2,4.2l-4.2,4.2l-4.2,-4.2zM2227.6,422.5l4.2,4.2l-4.2,4.2l-4.2,-4.2zM2246.1,423.1l4.2,4.2l-4.2,4.2l-4.2,-4.2zM2264.5,423.2l4.2,4.2l-4.2,4.2l-4.2,-4.2zM2265.1,422.3l4.2,4.2l-4.2,4.2l-4.2,-4.2zM2269.0,423.1l4.2,4.2l-4.2,4.2l-4.2,-4.2zM2283.0,422.6l4.2,4.2l-4.2,4.2l-4.2,-4.2zM2301.5,422.7l4.2,4.2l-4.2,4.2l-4.2,-4.2zM2320.0,422.1l4.2,4.2l-4.2,4.2l-4.2,-4.2zM2323.9,423.3l4.2,4.2l-4.2,4.2l-4.2,-4.2zM2338.5,423.1l4.2,4.2l-4.2,4.2l-4.2,-4.2zM2356.9,422.4l4.2,4.2l-4.2,4.2l-4.2,-4.2zM2375.4,422.3l4.2,4.2l-4.2,4.2l-4.2,-4.2zM2379.3,422.7l4.2,4.2l-4.2,4.2l-4.2,-4.2zM2393.9,422.2l4.2,4.2l-4.2,4.2l-4.2,-4.2zM2412.4,422.5l4.2,4.2l-4.2,4.2l-4.2,-4.2zM2430.9,422.5l4.2,4.2l-4.2,4.2l-4.2,-4.2zM2434.8,422.5l4.2,4.2l-4.2,4.2l-4.2,-4.2zM2436.5,423.0l4.2,4.2l-4.2,4.2l-4.2,-4.2z" fill="#e377c2"/><path d="M1896.1,315.6l4.2,4.2l-4.2,4.2l-4.2,-4.2zM1898.3,315.9l4.2,4.2l-4.2,4.2l-4.2,-4.2zM1901.1,315.2l4.2,4.2l-4.2,4.2l-4.2,-4.2zM1903.3,315.3l4.2,4.2l-4.2,4.2l-4.2,-4.2zM1905.0,314.7l4.2,4.2l-4.2,4.2l-4.2,-4.2zM1907.8,315.2l4.2,4.2l-4.2,4.2l-4.2,-4.2zM1910.6,315.8l4.2,4.2l-4.2,4.2l-4.2,-4.2zM1912.9,315.3l4.2,4.2l-4.2,4.2l-4.2,-4.2zM1913.4,315.8l4.2,4.2l-4.2,4.2l-4.2,-4.2zM1919.0,315.6l4.2,4.2l-4.2,4.2l-4.2,-4.2zM1924.6,314.9l4.2,4.2l-4.2,4.2l-4.2,-4.2zM1931.9,315.1l4.2,4.2l-4.2,4.2l-4.2,-4.2zM1932.5,315.2l4.2,4.2l-4.2,4.2l-4.2,-4.2zM1950.4,315.4l4.2,4.2l-4.2,4.2l-4.2,-4.2zM1968.9,315.5l4.2,4.2l-4.2,4.2l-4.2,-4.2zM1986.8,315.2l4.2,4.2l-4.2,4.2l-4.2,-4.2zM1987.3,315.3l4.2,4.2l-4.2,4.2l-4.2,-4.2zM1987.9,315.1l4.2,4.2l-4.2,4.2l-4.2,-4.2zM2005.8,315.0l4.2,4.2l-4.2,4.2l-4.2,-4.2zM2024.3,315.0l4.2,4.2l-4.2,4.2l-4.2,-4.2zM2042.8,315.5l4.2,4.2l-4.2,4.2l-4.2,-4.2zM2043.3,315.2l4.2,4.2l-4.2,4.2l-4.2,-4.2zM2061.3,315.0l4.2,4.2l-4.2,4.2l-4.2,-4.2zM2079.7,314.9l4.2,4.2l-4.2,4.2l-4.2,-4.2zM2098.2,314.8l4.2,4.2l-4.2,4.2l-4.2,-4.2zM2098.8,314.8l4.2,4.2l-4.2,4.2l-4.2,-4.2zM2116.7,314.5l4.2,4.2l-4.2,4.2l-4.2,-4.2zM2135.2,315.1l4.2,4.2l-4.2,4.2l-4.2,-4.2zM2153.7,315.0l4.2,4.2l-4.2,4.2l-4.2,-4.2zM2154.2,314.8l4.2,4.2l-4.2,4.2l-4.2,-4.2zM2172.1,314.4l4.2,4.2l-4.2,4.2l-4.2,-4.2zM2190.6,314.6l4.2,4.2l-4.2,4.2l-4.2,-4.2zM2209.1,315.0l4.2,4.2l-4.2,4.2l-4.2,-4.2zM2209.7,315.1l4.2,4.2l-4.2,4.2l-4.2,-4.2zM2227.6,314.6l4.2,4.2l-4.2,4.2l-4.2,-4.2zM2246.1,315.1l4.2,4.2l-4.2,4.2l-4.2,-4.2zM2264.5,314.6l4.2,4.2l-4.2,4.2l-4.2,-4.2zM2265.1,314.7l4.2,4.2l-4.2,4.2l-4.2,-4.2zM2269.0,315.1l4.2,4.2l-4.2,4.2l-4.2,-4.2zM2283.0,314.8l4.2,4.2l-4.2,4.2l-4.2,-4.2zM2301.5,314.6l4.2,4.2l-4.2,4.2l-4.2,-4.2zM2320.0,314.7l4.2,4.2l-4.2,4.2l-4.2,-4.2zM2323.9,314.7l4.2,4.2l-4.2,4.2l-4.2,-4.2zM2338.5,314.3l4.2,4.2l-4.2,4.2l-4.2,-4.2zM2356.9,314.6l4.2,4.2l-4.2,4.2l-4.2,-4.2zM2375.4,315.1l4.2,4.2l-4.2,4.2l-4.2,-4.2zM2379.3,314.7l4.2,4.2l-4.2,4.2l-4.2,-4.2zM2393.9,314.6l4.2,4.2l-4.2,4.2l-4.2,-4.2zM2412.4,314.6l4.2,4.2l-4.2,4.2l-4.2,-4.2zM2430.9,314.3l4.2,4.2l-4.2,4.2l-4.2,-4.2zM2434.8,314.3l4.2,4.2l-4.2,4.2l-4.2,-4.2zM2436.5,314.1l4.2,4.2l-4.2,4.2l-4.2,-4.2z" fill="#7f7f7f"/><path d="M1896.1,226.1l4.2,4.2l-4.2,4.2l-4.2,-4.2zM1898.3,226.3l4.2,4.2l-4.2,4.2l-4.2,-4.2zM1901.1,224.5l4.2,4.2l-4.2,4.2l-4.2,-4.2zM1903.3,225.3l4.2,4.2l-4.2,4.2l-4.2,-4.2zM1905.0,225.4l4.2,4.2l-4.2,4.2l-4.2,-4.2zM1907.8,226.6l4.2,4.2l-4.2,4.2l-4.2,-4.2zM1910.6,225.3l4.2,4.2l-4.2,4.2l-4.2,-4.2zM1912.9,225.5l4.2,4.2l-4.2,4.2l-4.2,-4.2zM1913.4,225.0l4.2,4.2l-4.2,4.2l-4.2,-4.2zM1919.0,224.7l4.2,4.2l-4.2,4.2l-4.2,-4.2zM1924.6,225.1l4.2,4.2l-4.2,4.2l-4.2,-4.2zM1931.9,225.1l4.2,4.2l-4.2,4.2l-4.2,-4.2zM1932.5,225.7l4.2,4.2l-4.2,4.2l-4.2,-4.2zM1950.4,225.9l4.2,4.2l-4.2,4.2l-4.2,-4.2zM1968.9,224.7l4.2,4.2l-4.2,4.2l-4.2,-4.2zM1986.8,224.8l4.2,4.2l-4.2,4.2l-4.2,-4.2zM1987.3,224.0l4.2,4.2l-4.2,4.2l-4.2,-4.2zM1987.9,224.8l4.2,4.2l-4.2,4.2l-4.2,-4.2zM2005.8,224.6l4.2,4.2l-4.2,4.2l-4.2,-4.2zM2024.3,224.9l4.2,4.2l-4.2,4.2l-4.2,-4.2zM2042.8,225.1l4.2,4.2l-4.2,4.2l-4.2,-4.2zM2043.3,225.1l4.2,4.2l-4.2,4.2l-4.2,-4.2zM2061.3,224.8l4.2,4.2l-4.2,4.2l-4.2,-4.2zM2079.7,223.0l4.2,4.2l-4.2,4.2l-4.2,-4.2zM2098.2,224.4l4.2,4.2l-4.2,4.2l-4.2,-4.2zM2098.8,224.7l4.2,4.2l-4.2,4.2l-4.2,-4.2zM2116.7,224.8l4.2,4.2l-4.2,4.2l-4.2,-4.2zM2135.2,225.2l4.2,4.2l-4.2,4.2l-4.2,-4.2zM2153.7,223.4l4.2,4.2l-4.2,4.2l-4.2,-4.2zM2154.2,223.2l4.2,4.2l-4.2,4.2l-4.2,-4.2zM2172.1,224.4l4.2,4.2l-4.2,4.2l-4.2,-4.2zM2190.6,225.6l4.2,4.2l-4.2,4.2l-4.2,-4.2zM2209.1,223.1l4.2,4.2l-4.2,4.2l-4.2,-4.2zM2209.7,222.8l4.2,4.2l-4.2,4.2l-4.2,-4.2zM2227.6,223.7l4.2,4.2l-4.2,4.2l-4.2,-4.2zM2246.1,225.1l4.2,4.2l-4.2,4.2l-4.2,-4.2zM2264.5,223.1l4.2,4.2l-4.2,4.2l-4.2,-4.2zM2265.1,223.8l4.2,4.2l-4.2,4.2l-4.2,-4.2zM2269.0,223.7l4.2,4.2l-4.2,4.2l-4.2,-4.2zM2283.0,224.4l4.2,4.2l-4.2,4.2l-4.2,-4.2zM2301.5,223.5l4.2,4.2l-4.2,4.2l-4.2,-4.2zM2320.0,224.5l4.2,4.2l-4.2,4.2l-4.2,-4.2zM2323.9,223.7l4.2,4.2l-4.2,4.2l-4.2,-4.2zM2338.5,222.0l4.2,4.2l-4.2,4.2l-4.2,-4.2zM2356.9,223.4l4.2,4.2l-4.2,4.2l-4.2,-4.2zM2375.4,222.8l4.2,4.2l-4.2,4.2l-4.2,-4.2zM2379.3,223.1l4.2,4.2l-4.2,4.2l-4.2,-4.2zM2393.9,223.9l4.2,4.2l-4.2,4.2l-4.2,-4.2zM2412.4,222.9l4.2,4.2l-4.2,4.2l-4.2,-4.2zM2430.9,220.8l4.2,4.2l-4.2,4.2l-4.2,-4.2zM2434.8,223.3l4.2,4.2l-4.2,4.2l-4.2,-4.2zM2436.5,222.7l4.2,4.2l-4.2,4.2l-4.2,-4.2z" fill="#bcbd22"/><path d="M1896.1,549.6l4.2,4.2l-4.2,4.2l-4.2,-4.2zM1898.3,549.6l4.2,4.2l-4.2,4.2l-4.2,-4.2zM1901.1,549.5l4.2,4.2l-4.2,4.2l-4.2,-4.2zM1903.3,549.4l4.2,4.2l-4.2,4.2l-4.2,-4.2zM1905.0,550.2l4.2,4.2l-4.2,4.2l-4.2,-4.2zM1907.8,550.1l4.2,4.2l-4.2,4.2l-4.2,-4.2zM1910.6,549.7l4.2,4.2l-4.2,4.2l-4.2,-4.2zM1912.9,549.2l4.2,4.2l-4.2,4.2l-4.2,-4.2zM1913.4,549.4l4.2,4.2l-4.2,4.2l-4.2,-4.2zM1919.0,549.3l4.2,4.2l-4.2,4.2l-4.2,-4.2zM1924.6,549.5l4.2,4.2l-4.2,4.2l-4.2,-4.2zM1931.9,549.8l4.2,4.2l-4.2,4.2l-4.2,-4.2zM1932.5,549.3l4.2,4.2l-4.2,4.2l-4.2,-4.2zM1950.4,549.6l4.2,4.2l-4.2,4.2l-4.2,-4.2zM1968.9,549.8l4.2,4.2l-4.2,4.2l-4.2,-4.2zM1986.8,550.0l4.2,4.2l-4.2,4.2l-4.2,-4.2zM1987.3,549.7l4.2,4.2l-4.2,4.2l-4.2,-4.2zM1987.9,549.0l4.2,4.2l-4.2,4.2l-4.2,-4.2zM2005.8,549.7l4.2,4.2l-4.2,4.2l-4.2,-4.2zM2024.3,549.8l4.2,4.2l-4.2,4.2l-4.2,-4.2zM2042.8,548.7l4.2,4.2l-4.2,4.2l-4.2,-4.2zM2043.3,549.9l4.2,4.2l-4.2,4.2l-4.2,-4.2zM2061.3,550.0l4.2,4.2l-4.2,4.2l-4.2,-4.2zM2079.7,549.3l4.2,4.2l-4.2,4.2l-4.2,-4.2zM2098.2,550.0l4.2,4.2l-4.2,4.2l-4.2,-4.2zM2098.8,549.6l4.2,4.2l-4.2,4.2l-4.2,-4.2zM2116.7,549.9l4.2,4.2l-4.2,4.2l-4.2,-4.2zM2135.2,549.9l4.2,4.2l-4.2,4.2l-4.2,-4.2zM2153.7,549.8l4.2,4.2l-4.2,4.2l-4.2,-4.2zM2154.2,549.7l4.2,4.2l-4.2,4.2l-4.2,-4.2zM2172.1,549.7l4.2,4.2l-4.2,4.2l-4.2,-4.2zM2190.6,549.5l4.2,4.2l-4.2,4.2l-4.2,-4.2zM2209.1,550.0l4.2,4.2l-4.2,4.2l-4.2,-4.2zM2209.7,549.9l4.2,4.2l-4.2,4.2l-4.2,-4.2zM2227.6,550.2l4.2,4.2l-4.2,4.2l-4.2,-4.2zM2246.1,549.0l4.2,4.2l-4.2,4.2l-4.2,-4.2zM2264.5,549.8l4.2,4.2l-4.2,4.2l-4.2,-4.2zM2265.1,549.7l4.2,4.2l-4.2,4.2l-4.2,-4.2zM2269.0,550.3l4.2,4.2l-4.2,4.2l-4.2,-4.2zM2283.0,549.3l4.2,4.2l-4.2,4.2l-4.2,-4.2zM2301.5,549.6l4.2,4.2l-4.2,4.2l-4.2,-4.2zM2320.0,550.0l4.2,4.2l-4.2,4.2l-4.2,-4.2zM2323.9,549.6l4.2,4.2l-4.2,4.2l-4.2,-4.2zM2338.5,549.4l4.2,4.2l-4.2,4.2l-4.2,-4.2zM2356.9,550.0l4.2,4.2l-4.2,4.2l-4.2,-4.2zM2375.4,550.0l4.2,4.2l-4.2,4.2l-4.2,-4.2zM2379.3,549.2l4.2,4.2l-4.2,4.2l-4.2,-4.2zM2393.9,549.2l4.2,4.2l-4.2,4.2l-4.2,-4.2zM2412.4,548.8l4.2,4.2l-4.2,4.2l-4.2,-4.2zM2430.9,549.2l4.2,4.2l-4.2,4.2l-4.2,-4.2zM2434.8,550.1l4.2,4.2l-4.2,4.2l-4.2,-4.2zM2436.5,550.1l4.2,4.2l-4.2,4.2l-4.2,-4.2z" fill="#17becf"/><path d="M1896.1,442.7l4.2,4.2l-4.2,4.2l-4.2,-4.2zM1898.3,461.5l4.2,4.2l-4.2,4.2l-4.2,-4.2zM1901.1,447.7l4.2,4.2l-4.2,4.2l-4.2,-4.2zM1903.3,459.4l4.2,4.2l-4.2,4.2l-4.2,-4.2zM1905.0,459.3l4.2,4.2l-4.2,4.2l-4.2,-4.2zM1907.8,459.3l4.2,4.2l-4.2,4.2l-4.2,-4.2zM1910.6,459.3l4.2,4.2l-4.2,4.2l-4.2,-4.2zM1912.9,459.3l4.2,4.2l-4.2,4.2l-4.2,-4.2zM1913.4,459.3l4.2,4.2l-4.2,4.2l-4.2,-4.2zM1919.0,459.4l4.2,4.2l-4.2,4.2l-4.2,-4.2zM1924.6,459.3l4.2,4.2l-4.2,4.2l-4.2,-4.2zM1931.9,459.2l4.2,4.2l-4.2,4.2l-4.2,-4.2zM1932.5,459.5l4.2,4.2l-4.2,4.2l-4.2,-4.2zM1950.4,459.5l4.2,4.2l-4.2,4.2l-4.2,-4.2zM1968.9,459.4l4.2,4.2l-4.2,4.2l-4.2,-4.2zM1986.8,459.5l4.2,4.2l-4.2,4.2l-4.2,-4.2zM1987.3,459.2l4.2,4.2l-4.2,4.2l-4.2,-4.2zM1987.9,459.4l4.2,4.2l-4.2,4.2l-4.2,-4.2zM2005.8,459.3l4.2,4.2l-4.2,4.2l-4.2,-4.2zM2024.3,459.4l4.2,4.2l-4.2,4.2l-4.2,-4.2zM2042.8,459.1l4.2,4.2l-4.2,4.2l-4.2,-4.2zM2043.3,459.2l4.2,4.2l-4.2,4.2l-4.2,-4.2zM2061.3,459.5l4.2,4.2l-4.2,4.2l-4.2,-4.2zM2079.7,459.5l4.2,4.2l-4.2,4.2l-4.2,-4.2zM2098.2,459.4l4.2,4.2l-4.2,4.2l-4.2,-4.2zM2098.8,459.1l4.2,4.2l-4.2,4.2l-4.2,-4.2zM2116.7,459.2l4.2,4.2l-4.2,4.2l-4.2,-4.2zM2135.2,459.5l4.2,4.2l-4.2,4.2l-4.2,-4.2zM2153.7,459.3l4.2,4.2l-4.2,4.2l-4.2,-4.2zM2154.2,459.5l4.2,4.2l-4.2,4.2l-4.2,-4.2zM2172.1,459.3l4.2,4.2l-4.2,4.2l-4.2,-4.2zM2190.6,459.2l4.2,4.2l-4.2,4.2l-4.2,-4.2zM2209.1,459.3l4.2,4.2l-4.2,4.2l-4.2,-4.2zM2209.7,459.3l4.2,4.2l-4.2,4.2l-4.2,-4.2zM2227.6,459.4l4.2,4.2l-4.2,4.2l-4.2,-4.2zM2246.1,459.3l4.2,4.2l-4.2,4.2l-4.2,-4.2zM2264.5,459.3l4.2,4.2l-4.2,4.2l-4.2,-4.2zM2265.1,459.5l4.2,4.2l-4.2,4.2l-4.2,-4.2zM2269.0,459.3l4.2,4.2l-4.2,4.2l-4.2,-4.2zM2283.0,459.3l4.2,4.2l-4.2,4.2l-4.2,-4.2zM2301.5,459.3l4.2,4.2l-4.2,4.2l-4.2,-4.2zM2320.0,459.3l4.2,4.2l-4.2,4.2l-4.2,-4.2zM2323.9,459.2l4.2,4.2l-4.2,4.2l-4.2,-4.2zM2338.5,459.4l4.2,4.2l-4.2,4.2l-4.2,-4.2zM2356.9,459.4l4.2,4.2l-4.2,4.2l-4.2,-4.2zM2375.4,459.2l4.2,4.2l-4.2,4.2l-4.2,-4.2zM2379.3,459.2l4.2,4.2l-4.2,4.2l-4.2,-4.2zM2393.9,459.4l4.2,4.2l-4.2,4.2l-4.2,-4.2zM2412.4,459.2l4.2,4.2l-4.2,4.2l-4.2,-4.2zM2430.9,459.4l4.2,4.2l-4.2,4.2l-4.2,-4.2zM2434.8,459.3l4.2,4.2l-4.2,4.2l-4.2,-4.2zM2436.5,459.1l4.2,4.2l-4.2,4.2l-4.2,-4.2zM1901.1,447.7l4.2,4.2l-4.2,4.2l-4.2,-4.2z" fill="#1f77b4"/><path d="M1896.1,472.3l4.2,4.2l-4.2,4.2l-4.2,-4.2zM1898.3,472.5l4.2,4.2l-4.2,4.2l-4.2,-4.2zM1901.1,472.4l4.2,4.2l-4.2,4.2l-4.2,-4.2zM1903.3,472.5l4.2,4.2l-4.2,4.2l-4.2,-4.2zM1905.0,472.4l4.2,4.2l-4.2,4.2l-4.2,-4.2zM1907.8,472.4l4.2,4.2l-4.2,4.2l-4.2,-4.2zM1910.6,472.7l4.2,4.2l-4.2,4.2l-4.2,-4.2zM1912.9,472.6l4.2,4.2l-4.2,4.2l-4.2,-4.2zM1913.4,472.6l4.2,4.2l-4.2,4.2l-4.2,-4.2zM1919.0,472.6l4.2,4.2l-4.2,4.2l-4.2,-4.2zM1924.6,472.4l4.2,4.2l-4.2,4.2l-4.2,-4.2zM1931.9,472.5l4.2,4.2l-4.2,4.2l-4.2,-4.2zM1932.5,472.6l4.2,4.2l-4.2,4.2l-4.2,-4.2zM1950.4,472.5l4.2,4.2l-4.2,4.2l-4.2,-4.2zM1968.9,472.5l4.2,4.2l-4.2,4.2l-4.2,-4.2zM1986.8,472.3l4.2,4.2l-4.2,4.2l-4.2,-4.2zM1987.3,472.4l4.2,4.2l-4.2,4.2l-4.2,-4.2zM1987.9,472.4l4.2,4.2l-4.2,4.2l-4.2,-4.2zM2005.8,472.3l4.2,4.2l-4.2,4.2l-4.2,-4.2zM2024.3,472.5l4.2,4.2l-4.2,4.2l-4.2,-4.2zM2042.8,472.4l4.2,4.2l-4.2,4.2l-4.2,-4.2zM2043.3,472.6l4.2,4.2l-4.2,4.2l-4.2,-4.2zM2061.3,472.2l4.2,4.2l-4.2,4.2l-4.2,-4.2zM2079.7,472.3l4.2,4.2l-4.2,4.2l-4.2,-4.2zM2098.2,472.6l4.2,4.2l-4.2,4.2l-4.2,-4.2zM2098.8,472.5l4.2,4.2l-4.2,4.2l-4.2,-4.2zM2116.7,472.5l4.2,4.2l-4.2,4.2l-4.2,-4.2zM2135.2,472.6l4.2,4.2l-4.2,4.2l-4.2,-4.2zM2153.7,472.4l4.2,4.2l-4.2,4.2l-4.2,-4.2zM2154.2,472.4l4.2,4.2l-4.2,4.2l-4.2,-4.2zM2172.1,472.4l4.2,4.2l-4.2,4.2l-4.2,-4.2zM2190.6,472.4l4.2,4.2l-4.2,4.2l-4.2,-4.2zM2209.1,472.6l4.2,4.2l-4.2,4.2l-4.2,-4.2zM2209.7,472.4l4.2,4.2l-4.2,4.2l-4.2,-4.2zM2227.6,472.4l4.2,4.2l-4.2,4.2l-4.2,-4.2zM2246.1,472.3l4.2,4.2l-4.2,4.2l-4.2,-4.2zM2264.5,472.3l4.2,4.2l-4.2,4.2l-4.2,-4.2zM2265.1,472.4l4.2,4.2l-4.2,4.2l-4.2,-4.2zM2269.0,472.6l4.2,4.2l-4.2,4.2l-4.2,-4.2zM2283.0,472.5l4.2,4.2l-4.2,4.2l-4.2,-4.2zM2301.5,472.5l4.2,4.2l-4.2,4.2l-4.2,-4.2zM2320.0,472.6l4.2,4.2l-4.2,4.2l-4.2,-4.2zM2323.9,472.5l4.2,4.2l-4.2,4.2l-4.2,-4.2zM2338.5,472.4l4.2,4.2l-4.2,4.2l-4.2,-4.2zM2356.9,472.6l4.2,4.2l-4.2,4.2l-4.2,-4.2zM2375.4,472.6l4.2,4.2l-4.2,4.2l-4.2,-4.2zM2379.3,472.5l4.2,4.2l-4.2,4.2l-4.2,-4.2zM2393.9,472.5l4.2,4.2l-4.2,4.2l-4.2,-4.2zM2412.4,472.3l4.2,4.2l-4.2,4.2l-4.2,-4.2zM2430.9,472.3l4.2,4.2l-4.2,4.2l-4.2,-4.2zM2434.8,472.3l4.2,4.2l-4.2,4.2l-4.2,-4.2zM2436.5,472.5l4.2,4.2l-4.2,4.2l-4.2,-4.2z" fill="#ff7f0e"/><path d="M1860.5,203V594.5" stroke="#444" stroke-width="1" shape-rendering="crispEdges"/><text x="1857.3999999999999" y="576.8000000000001" text-anchor="end" font-size="15.5" fill="#444" letter-spacing="1.1">0</text><text x="1857.3999999999999" y="514.1999999999999" text-anchor="end" font-size="15.5" fill="#444" letter-spacing="1.1">2</text><text x="1857.3999999999999" y="451.6" text-anchor="end" font-size="15.5" fill="#444" letter-spacing="1.1">4</text><text x="1857.3999999999999" y="389.0" text-anchor="end" font-size="15.5" fill="#444" letter-spacing="1.1">6</text><text x="1857.3999999999999" y="326.40000000000003" text-anchor="end" font-size="15.5" fill="#444" letter-spacing="1.1">8</text><text x="1857.3999999999999" y="263.8" text-anchor="end" font-size="15.5" fill="#444" letter-spacing="1.1">10</text><text x="1896.05" y="610.3000000000001" text-anchor="middle" font-size="15.5" fill="#444" letter-spacing="1.1">0</text><text x="2008.05" y="610.3000000000001" text-anchor="middle" font-size="15.5" fill="#444" letter-spacing="1.1">200</text><text x="2120.05" y="610.3000000000001" text-anchor="middle" font-size="15.5" fill="#444" letter-spacing="1.1">400</text><text x="2232.05" y="610.3000000000001" text-anchor="middle" font-size="15.5" fill="#444" letter-spacing="1.1">600</text><text x="2344.05" y="610.3000000000001" text-anchor="middle" font-size="15.5" fill="#444" letter-spacing="1.1">800</text><text x="2456.05" y="610.3000000000001" text-anchor="middle" font-size="15.5" fill="#444" letter-spacing="1.1">1000</text><text x="2170.5" y="631.4" text-anchor="middle" font-size="17.6" fill="#444" letter-spacing="1.25">Injection Sequence</text><text transform="translate(1823.6,399) rotate(-90)" text-anchor="middle" font-size="17.6" fill="#444" letter-spacing="1.25">RT(min)</text></svg>
<svg class="abs" style="left:203px;top:742px;z-index:2" width="772" height="520" viewBox="203 742 772 520" fill="none" stroke-linejoin="round" stroke-linecap="butt"><path d="M290,1146.5H910" stroke="#eee" stroke-width="1" shape-rendering="crispEdges"/><path d="M290,1098.5H910" stroke="#eee" stroke-width="1" shape-rendering="crispEdges"/><path d="M290,1049.5H910" stroke="#eee" stroke-width="1" shape-rendering="crispEdges"/><path d="M290,953.5H910" stroke="#eee" stroke-width="1" shape-rendering="crispEdges"/><path d="M290,904.5H910" stroke="#eee" stroke-width="1" shape-rendering="crispEdges"/><path d="M290,856.5H910" stroke="#eee" stroke-width="1" shape-rendering="crispEdges"/><path d="M290,808.5H910" stroke="#eee" stroke-width="1" shape-rendering="crispEdges"/><path d="M437.5,795V1186" stroke="#eee" stroke-width="1" shape-rendering="crispEdges"/><path d="M549.5,795V1186" stroke="#eee" stroke-width="1" shape-rendering="crispEdges"/><path d="M661.5,795V1186" stroke="#eee" stroke-width="1" shape-rendering="crispEdges"/><path d="M773.5,795V1186" stroke="#eee" stroke-width="1" shape-rendering="crispEdges"/><path d="M885.5,795V1186" stroke="#eee" stroke-width="1" shape-rendering="crispEdges"/><path d="M290,1001.5H910" stroke="#444" stroke-width="1" shape-rendering="crispEdges"/><path d="M325.5,795V1186" stroke="#444" stroke-width="1" shape-rendering="crispEdges"/><path d="M325.5,830.5l0.6,152.1 1.6-30.2 1.2,20.2 0.5,2.6 1.1-29.5 1.2,34.4 0.5-3.5 0.6-31 1.1,39.9 0.6-20 0.5,12.9 0.6-6.6 0.5-1.8 0.6,2.5 0.6-15.4 1.1,13.5 1.1-17.4 0.6,29.7 0.5-16.9 0.6,8.6 0.5-9.8 0.6,13.3 0.6-16 0.5,0.6 0.6,3.1 0.5,8.8 0.6-8 0.6,8.3 0.5,3 0.6-19.2 0.5,16 0.6-27.7 0.6,5.3 0.5,32.7 0.6-27.6 0.5,16.5 0.6-13.9 0.6-0.2 0.5,24.3 0.6-21.3 0.5,0.1 0.6-14.8 0.6,25.7 0.5-23.3 0.6,22.1 0.5-9.4 0.6,6 0.6-27.8 0.5,10.5 0.6-22.7 0.5,21.5 0.6-2.6 0.6-0.1 0.5,17.4 1.1-24 0.6,21 0.6-7.2 0.5,2.4 0.6-7.8 0.5,11.7 1.2-7.7 0.5,1.6 0.6,11.5 0.5-21.4 0.6,26.4 0.6-1.3 0.5,0.8 0.6-27.3 1.1,23.1 0.6,1.9 0.5-19 0.6,17.7 0.5,2.5 0.6-22.9 0.6,21.7 0.5-10.7 0.6-3.9 0.5,5.1 0.6-4.8 0.6-17 0.5,22.3 1.1,15.6 0.6-19.8 0.6,1.6 0.5-7.6 0.6,8.7 0.5,0 0.6,2.8 0.6-2.6 0.5-8.3 0.6,6.4 0.5-6 0.6-21.8 1.1,41.7 0.6-40.1 1.1,32 0.6-22.5 1.1,18.1 0.5,0.1 0.6,4.2 1.1-25.2 0.6,16.7 1.1-26.8 0.6,37.1 0.5-17.9 1.1,15.6 0.6-0.5 1.1-17.9 0.6,11.5 1.1-15.4 0.6,5 0.5-7.1 0.6,4.8 0.5-0.4 0.6-16.4 1.1,20.3 0.6-7.2 0.5,19.5 1.2-20.9 0.5,1.8 0.6-11.2 1.1,36.1 0.6-41.3 1.1,36 0.5-29.6 1.2,38.3 0.5-17 0.6,0.9 0.5-25.5 0.6,28.7 0.6-6.7 0.5,0.2 0.6,1.1 0.5,6.3 1.2-24.3 0.5,5.3 0.6,18.6 0.5,2.5 0.6-15.4 0.6,9.8 0.5-1.1 0.6,12.6 0.5-44 1.2,35 0.5-22.8 0.6-5.4 0.5,44.9 0.6-22.4 0.6-2.1 0.5-12.6 0.6,9.1 0.5,1.2 0.6-2.2 0.6-23.2 0.5-3.9 0.6,32.3 0.5,4.7 0.6-43.8 0.6,44.2 2.2-24.8 1.1,22.7 0.6-16.8 0.5,2.9 0.6-19.8 1.1,38.6 0.6-3.7 0.5-30.3 1.2,42.7 1.6-40.2 0.6,26.4 0.6-20.4 0.5-1.7 0.6,17.9 0.5-6.3 0.6-23.8 0.6,0.5 1.1,16.5 0.5-9.9 0.6,15.3 0.6-0.7 0.5,9.1 0.6-10.6 0.5,0.9 0.6-34.6 0.6,35.7 0.5-17.8 0.6-0.8 0.5,18.1 0.6-16.5 0.6,40.2 0.5-27.5 0.6-9.4 0.5,39.2 1.2-42 1.1,25.7 0.5-8.9 0.6,1.9 0.6-15.4 1.6,16.4 1.2-24.3 0.5,11.6 0.6-3.6 1.1,23 1.1-23.8 1.7,27 0.6-21 0.5,5.3 1.1-0.4 0.6-7.5 0.6-0.3 0.5-8.2 0.6,0.3 0.5-5.1 1.2,19.9 1.1-10.3 0.5,9.6 1.2-18 1.1,35 0.5-35.9 0.6,14.1 0.6-8.5 0.5,24.5 0.6-37.2 1.1,22.2 0.6,2.6 0.5-5.8 1.1,4.5 0.6,10 0.6-28.9 0.5,15.6 0.6-1.5 0.5-0.4 0.6,29.5 0.6-35 0.5,10.2 0.6-0.6 0.5-4.5 0.6,12.4 0.6-22 0.5,18.4 0.6,2.4 0.5-0.7 1.2-19.7 1.1,27 0.5-31.2 0.6,25.5 0.6-27.4 1.1,22.6 0.5-0.8 1.2-18.8 0.5,13 1.1-27.9 1.2,38.8 0.5-1.3 0.6,4 0.5-9.3 0.6,0.9 0.6,7.1 0.5-22.5 0.6,37.8 1.1-56.2 0.6,11.7 0.5,6.1 0.6,0.6 0.5-16 1.7,35.9 0.6-14.1 0.5,7.8 1.2-0.5 0.5-8.3 0.6,3.3 0.5-14.6 0.6,26.4 1.1-38.8 0.6,21.9 0.5-14.2 0.6,0.7 0.6-2.4 0.5,6.9 0.6,25.4 0.5-13.6 0.6,1.3 0.6,13.9 0.5-13.2 1.1,14.2 0.6-22.8 1.7,13.6 0.5-5 0.6-2 0.6,0.1 0.5-4.5 0.6,4.5 0.5-10.1 0.6-1.7 0.6,1.8 0.5,12.2 0.6-0.7 0.5-12.8 0.6,7.5 0.6-2 0.5,29.4 0.6,2.4 0.5-36.9 0.6,0 0.6-13 1.1,13.9 0.5,2.3 0.6,17.3 0.6-28 0.5,17.8 0.6-13.5 0.5,3.5 0.6-1 0.6-7.6 0.5,16.5 0.6-1.4 0.5,5.5 0.6-5.9 0.6-24.8 0.5,24.4 0.6-18.9 0.5,4.2 0.6,1.1 0.6-1.1 0.5,21.8 1.1-31.7 0.6,27.5 0.6-8 0.5,7.6 0.6-12.3 0.5,16.7 0.6-32.6 1.1,37.8 0.6-40.4 1.1,15.1 0.6-0.3 0.5,10.6 0.6-1.8 0.5-11.5 0.6-2.5 0.6-0.3 1.1,16.6 0.5-3.5 0.6-15.8 0.6-4.2 0.5,21.4 0.6,1.5 0.5-21 0.6,6.2 0.6,0.2 0.5,24.1 0.6-11.4 0.5,1.5 0.6-8.8 0.6,22.7 0.5-35.9 0.6,11.6 0.5-1.7 0.6,19.4 1.1-30.7 0.6,34.9 0.5-22.8 0.6-4.9 0.6,16.7 0.5-18.4 0.6,13.7 0.5-18.9 1.2,11.8 0.5-21.7 0.6,14.1 0.5-5.9 0.6,30 0.6-6.7 0.5-18 0.6-1 0.5,11.5 0.6-10.2 0.6,22 0.5-15.5 0.6,16.3 0.5-18.1 0.6,9.8 0.6,1.8 1.1-30 0.5,34 0.6-5.1 0.6-20.3 0.5,17.9 0.6-26.6 0.5,18.5 0.6,1.5 0.6-3.4 0.5-16.8 0.6,12.9 1.1,4.6 0.6,21.8 0.5-8.3 0.6-28.8 1.1,11.6 0.6-1.8 0.5,14.1 0.6-10.7 0.5,14.8 0.6-15.8 0.6,13.2 1.1-14.3 0.5,9.2 0.6-11.9 1.1,3.2 0.6-11.8 0.5,33.7 0.6,1.3 0.6-26.8 0.5-4.1 0.6-13.1 0.5,15.1 0.6-1.1 0.6,20.6 0.5-19.9 0.6,0.8 0.5,20.7 0.6-2 1.1-14.6 0.6,38.9 0.5-36.6 0.6-2 0.6,4.8 1.1-8 0.5,17.6 0.6-17.4 1.1,16.2 1.1-29.7 0.6,35.5 0.6,2.2 0.5-0.2 0.6-43.9 0.5,26.7 0.6-2.4 0.6,8.6 0.5,1.7 0.6,13 0.5-26.7 0.6-1.2 0.6,26.9 0.5-11.4 1.7-16 0.6-10.8 0.5-3 0.6,3.4 0.5-3.4 0.6,30.1 0.6-7.5 0.5-20.6 0.6,10.1 0.5,3.2 0.6,24 0.6-1.6 0.5-31.5 1.1,12.2 0.6,1.2 0.6,15.8 0.5-25.5 1.1-15.6 0.6,19.1 0.6,2.9 0.5,10.6 0.6-28.1 0.5-6 0.6,27.9 0.6-11.1 0.5,2.3 0.6,7.9 0.5,23 1.2-37.7 0.5,24.6 0.6-7.4 0.5,29.3 0.6-55.3 0.6,9.4 1.6,13.3 0.6-6.9 0.6,2.7 0.5-0.9 1.1-4.8 0.6-17.4 0.6,36.1 0.5-20.8 1.7,31.3 0.6-36 0.5,19.1 0.6-2.9 0.5-14.9 0.6,18.7 0.6-13.6 0.5,1.1 0.6-10.7 0.5-2.7 0.6,22.5 0.6-21.6 0.5,12.1 0.6-2.8 0.5,3.9 0.6-12.1 0.6,23.9 1.1-29.2 0.5,17.5 0.6-28 0.6,33.2 0.5-11.6 0.6,8.3 0.5,1.5 0.6,5.8 1.1-13.1 0.6,8.9 1.1-28.3 0.6,36.7 0.5-28.7 0.6,7.7 0.5-0.8 0.6-26.9 1.1,25.3 0.6,1.7 0.5,28.1 0.6-35.6 0.6,18.2 0.5-11.3 0.6,0.8 1.1-23.6 0.6,12.5 0.5-3.6 0.6,18.1 1.1-12.4 0.6,26.5 0.5-42.2 0.6,33.2 0.5,6.6 0.6-35.3 0.6-6 0.5,34 0.6-1.3 0.5-45.1 1.2,61.3 1.1-48.5 0.5,16.1 0.6-1.2 0.6-5.9 1.1,18.5 0.5,140.1 0.6-23.7 0.6,18 1.1-33.5 1.1,19.6 0.6-0.2 0.5-7.7 0.6-2.3 0.5,25.9 1.2-35.3 1.1,28.6 0.5-1.1 0.6,16 1.1-42.7 1.1,28.4 1.2-8.8 0.5-0.1 1.1,7.6 1.2-26.9 0.5,24.3 0.6-0.4 0.5-20.1 0.6,30.7 0.6-10.2 1.1-8.9 1.1,12.1 0.6-14 0.5,17.3 1.1,9.6 0.6-32.3 0.6,28.8 0.5-25.4 1.1-4.3 0.6,11.3 0.6,4.3 0.5-7.5 1.1,15.8 0.6-29.5 0.6,24.8 0.5-31.2 1.1,25.9 1.2-19.7 0.5,30.2 0.6-5.3 0.5,1.4 0.6-14.2 0.6-2.8 1.1,13 0.5-2.4 0.6-20 0.6,0.8 0.5,11.3 0.6,167.6 0.5-122.7 0.6-46.9 0.6,0.3 0.5-17.2 1.1,31.2 0.6-0.1 0.6-27.3 0.5,13.6 0.6-8 1.1,21.1 1.1-29.9 1.1,31 0.6-9.6 0.6,2.1 1.6-29 0.6,20.1 0.6,7.5 0.5-6 0.6,0.6 0.5,5.1 0.6-5.3 0.6,0.2 0.5,13.6 0.6-20.1 1.1,17.6 0.6-17.1 0.5,11.2 0.6-25.9 0.5,14.6 1.2,14.2 0.5-4.1 0.6-14.6 0.5,17.8 0.6-16.9 0.6,33.1 0.5-26.7 0.6-7.2 1.1,9.4 0.6-11.8 0.5,21.6 0.6,1.4 1.1-25.5 1.1,16.1 0.6-5.8 0.5-1.8 1.2,37.6 0.5-20.7 0.6,5.3 0.5-10.7 0.6,7.2 0.6-4 0.5-15.1 0.6,3.8 0.5,1.3 0.6-19.6 0.6,24.5 0.5-1 0.6-19.2 0.5,27.5 0.6,5.9 0.6-34.1 0.5,11.1 1.7-6.8 0.6,15.8 0.5-4.7 0.6,12 0.5-14.6 0.6-1.2 0.6,7.9 1.1-39.7 0.5,47.5 0.6-23.1 1.1-2.9 0.6,21.6 0.5-23.3 1.2,15.1 0.5,2.4 1.1-15 0.6,0.5 0.6-16.4 0.5,30.5 0.6-11.4 0.5,12.1 0.6-14.1 1.7,24.2 1.7-32.7 0.5,8 0.6,22.8 1.1-14.3 0.6,1.9 0.5-2.1 0.6-8.2 1.7,31.5 0.5-18.4 0.6,15.6 0.5-17.6 0.6-5.5 0.6,19.2 0.5-13.8 0.6,2.4 0.5-26 1.2,44 0.5-26.9 0.6,0.3 0.5,7.1 0.6,2 0.6-11.3 0.5-0.7 0.6,2.6 0.5,16.5 0.6-8.6 0.6,15.1 0.5-0.7 0.6-10.9 0.5,5.7 0.6-7.4 0.6-33.6 1.6,53.8 0.6-15.4 1.1,15.7 0.6-33.9 0.5,14 0.6-10.7 0.6-30.8 0.5,32.6 0.6,1.7 0.5-2.8 1.2,13.5 1.1-22.9 1.1,28.9 1.1-4.1 0.6-12.1 0.5-5.6 0.6-0.1 0.6-8.3 0.5,16 0.6-12.2 0.5,5.7 0.6-4.5 0.6,29.4 0.5-36 0.6,32.2 0.5-5 0.6-22.2 0.6,13.4 0.5-25.1 1.1,32.1 0.6-13.8 0.6,6.4 0.5-22.8 0.6-0.9 1.1,23.4 1.1-17.1 0.6,21.4 0.5-0.2 0.6-19.1 0.6,1.2 0.5,11.2 0.6,0.3 0.5,19.5 0.6-36.4 1.1,30.1 1.1-6.4 0.6-30.2 1.1,35.1 0.6-37.1 0.5,6 1.2,46.1 0.5-42 0.6,18 0.5-5.4 0.6,4.4 0.6-20.7 0.5-2.7 1.1,18.8 1.2-9.1 0.5,25.4 0.6-32.8 0.5,18.1 0.6-6.8 0.6,1.3 0.5-9 0.6-1.9 0.5-13.3 0.6,29.6 0.6,6.3 0.5-12.2 0.6,9.1 0.5-17.7 0.6,19.3 1.1-20.4 0.6-1 0.5,9.3 0.6-14.1 0.6,1.4 0.5,34.5 0.6-23.9 0.5,2 1.2,9.3 1.1-12 0.5,1.2 0.6-12.8 0.6,4.3 0.5,18.2 0.6,1.9 0.5-18.7 0.6,17.9 0.6-10.1 1.1-10.2 0.5,5.9 0.6-10.8 0.6,22 0.5-13.2 0.6,15.3 0.5-9.8 0.6,0.6" stroke="#1f77b4" stroke-width="1.3"/><path d="M325.5,1005.3l0.6-16.3 0.5,12.2 0.6-1.5 0.5,8 1.2-20 0.5,15.6 0.6-0.5 0.5,4.6 0.6-17.7 0.6,25.2 1.1-27.6 0.5-6.1 0.6,18 0.6-13.5 0.5,32.4 0.6-30.8 0.5,4.9 0.6,16.5 0.6,5.9 1.1-23.3 0.5-1.5 0.6,2.6 0.6-7.7 0.5,0.5 0.6,22.9 0.5-11.4 0.6,1.1 0.6-17.4 0.5,16.6 0.6-16.9 0.5,9.9 0.6-25.3 0.6,26.3 0.5-0.9 0.6,1.1 0.5-3.2 0.6-25.6 0.6,32.4 0.5,3.8 1.1-17.6 0.6,18.2 0.6-20.1 0.5,0.1 0.6,10.1 0.5,0.8 0.6,5.7 0.6-5.9 0.5,5.6 0.6-22.9 0.5-4.5 0.6,21 0.6-2.9 0.5,20.4 1.1-25.3 1.2,2 0.5-8.2 1.1,13.3 0.6-22.3 0.6,38.8 1.1-13.4 0.5-0.3 0.6,0.3 0.6-6.3 0.5,5.2 1.1-14.8 0.6,6.1 0.6-1.3 0.5,11.6 0.6,2.1 1.1-23.3 0.6,6 0.5-8.1 0.6,0.9 0.5-1.7 0.6,21.2 0.6-22.8 0.5,5.1 0.6-14.7 0.5,16.2 1.2,7.6 0.5-3.4 0.6,19.9 0.5-15.7 0.6-2.5 0.6-11.6 0.5,18 1.1-27.7 0.6,25.8 0.6-15.3 0.5,15 1.7-16.2 0.6,15 0.5,5.7 0.6-28.2 0.5,14.5 0.6-6.8 0.6-1.5 0.5,1.5 0.6,11.1 0.5-1.6 0.6,15.5 0.6-19.3 0.5,7 0.6,36.3 0.5-62.4 1.7,35 1.1-32 0.6,25.6 0.6-13.8 0.5,10.1 0.6-4.1 0.5,2.2 0.6,13.4 0.6-12.2 0.5,12 0.6-33.1 0.5,3.6 0.6,10.8 0.6-2.7 0.5,2.2 0.6-1.7 0.5-0.1 0.6,4.6 0.6-1 0.5,12.7 1.1-8.4 0.6-9 0.6,6.2 0.5-25.1 0.6,22.8 0.5,1.6 1.7-24.6 1.1,26.3 0.6-4.7 0.6-13.5 0.5,8.5 0.6-6.1 0.5,9.4 0.6-18.4 1.1,4.8 1.1,29.5 0.6-3 0.6-18.4 0.5-3.7 0.6,38.6 1.1-44.5 0.6,1.9 0.5,15.7 0.6-12.5 1.1,8.9 0.6-14.7 0.5-0.3 0.6,17.9 1.1,8.2 0.6,1 0.5-30 0.6-6.1 0.5,17.9 0.6-9.3 0.6,18.7 1.1-17.7 1.1,10 0.6,17.5 0.5-2.4 0.6-11.4 0.5,1.3 0.6-5.3 0.6,5.9 1.6-12.9 1.2,11.2 0.5-3.1 0.6-13 1.1,20 0.6,0.3 0.5-14.1 1.1-10.5 0.6,16.6 0.6-18.5 0.5,18.5 0.6-1.4 0.5,3.5 1.2-17.8 1.6,27.6 0.6-18.5 0.6,5.2 0.5-1.7 1.1,7 1.7-20.2 0.6,10.3 0.5-3.8 0.6,5.5 0.6-0.9 0.5,13.2 0.6-24.4 0.5,2.9 0.6-9.4 0.6,22.2 0.5-8.2 0.6,11.2 0.5-12.7 0.6,3.8 0.6-8.8 0.5,8.7 0.6-8.6 0.5,12 0.6-11.8 0.6,9.5 0.5,1.3 1.1-9 0.6,19 0.6,1 0.5-18.5 0.6,2.4 0.5,21.2 0.6-3.7 1.1-22.1 0.6,1.1 0.5-8.8 0.6-2 0.6-13 0.5,40.9 1.1-27.3 0.6,24.8 0.6,1.5 1.1-27.3 0.5-1.8 0.6,32.5 1.1-18.5 0.6,4.5 0.5-9.3 0.6,1.9 0.6-17.7 0.5,19.5 0.6-2.8 0.5,1 0.6-11.3 0.6,23.8 0.5-16.3 1.1,19.1 0.6-28.2 0.6,6.9 0.5-9.5 0.6,12.1 0.5-4.4 0.6,5.4 0.6-4.9 0.5,10.5 0.6-23.1 0.5,27.9 0.6-28.3 0.6,20.5 0.5-11.7 0.6,7.7 0.5-3.5 0.6-11.4 1.1,26 0.6-13 0.5-4.6 0.6,33.5 0.6-37.4 0.5-1.4 0.6,30.9 1.1-28.4 0.6,21.3 0.5-8.1 0.6-1 1.1-16.2 0.6,12.3 0.5-1.1 0.6-9.6 1.1,11 0.6-15.9 0.5,29.8 0.6-17.2 0.5,6.1 0.6,0.7 0.6-7.8 0.5,1.6 0.6-26.5 0.5,19.6 0.6,3.1 0.6-14.4 0.5,6.8 0.6,31.3 0.5-21.8 0.6-7 0.6,14.6 0.5-10 0.6,8.1 0.5-9.2 0.6,21.7 0.6,3.4 1.6-36.3 0.6,17.5 0.6,5 0.5-18.4 0.6,9.5 0.5-19.5 1.2,40.8 0.5-12.7 0.6,1.5 0.5,4.7 0.6-6.9 0.6-1.1 0.5-4.6 0.6,2.8 0.5-10.6 0.6-0.2 0.6,46 0.5-44 0.6,22.7 0.5-2.5 1.2-21.4 0.5,18.7 1.1-19.1 0.6-19.2 1.1,27.4 0.6-18 1.1,15 0.6-15.7 0.5,22.2 0.6-12.3 0.5,1.1 0.6-9.2 0.6,22.4 0.5,1.5 0.6-10.1 1.1-5 0.6,4.4 0.5-9 0.6-3 0.5,5 0.6,14 0.6-24.5 0.5,29.5 1.1-27 0.6,16.4 0.6-21.1 0.5-7 0.6,3.5 0.5,12.5 0.6-6.2 0.6,16.3 0.5-10.2 0.6-0.8 0.5,3.9 0.6-0.8 0.6,3.8 0.5,19.2 0.6-26.2 0.5,0.8 0.6-19.3 1.1,21.5 0.6-9 0.5,2.6 1.2,10.8 0.5,11.8 1.1-34.4 0.6,38.4 1.1-29.3 0.6,6.1 0.5-2.7 0.6,25.1 1.1-26.5 0.6-1.1 0.5,3.1 0.6,12.9 0.6-15.9 0.5,19 0.6-2.9 0.5,2.3 0.6-28.9 0.6,20.3 0.5-5.3 0.6,24.8 0.5-36.6 0.6,6.8 0.6,23.3 0.5-0.7 0.6-36.3 0.5,28.7 0.6-31 1.1,47.6 0.6-39.9 0.5,6.5 0.6-2.1 0.6,13 0.5-3.4 0.6-13.1 1.1,32.1 0.6-32 0.5,16.8 0.6-21.2 0.5,19.4 1.2-2.9 0.5,23.2 0.6-39.3 0.5,19.8 0.6-4.9 0.6-18.6 0.5,14.8 0.6-8.8 0.5,6.1 0.6-5 0.6,5.3 0.5-9.9 0.6,15 0.5-7.6 0.6,12.8 0.6-21.2 0.5,37.3 0.6-26.5 0.5-2.1 0.6,0.1 0.6,3.7 1.1-23.8 1.1,44.3 1.7-20.1 0.5-1.1 0.6-12.7 0.6,16.6 1.1-6.3 0.5,10.8 0.6-6.4 0.6-34.2 0.5,31.4 1.1,22.9 0.6-35.9 0.6,15 0.5,3.3 0.6-34.3 0.5,11 0.6,34.8 1.1-30.4 0.6,1.7 0.5,21.5 0.6-32.3 0.6-1 0.5,32.8 0.6,7.1 0.5-4.3 0.6-23 0.6-4.7 1.1,18.3 1.1-13.2 0.6,19.6 0.5,5.2 1.1-32.8 0.6,11.4 0.6-0.2 0.5,9.5 0.6-17.8 0.5,29 0.6-18.4 0.6,5.8 0.5-5.1 0.6,8.5 0.5-18.8 1.2,14.7 0.5-12.5 1.1,11.2 0.6,0.6 0.6-15.3 0.5,18.9 0.6-8.1 0.5,0.4 0.6-6.6 0.6,5.5 0.5-26.3 0.6,43.2 0.5-26.1 0.6,6.8 0.6-12.9 0.5,30.3 0.6-31.7 0.5,28.7 0.6-23.2 0.6,1.8 1.1,13.6 0.5,0.7 0.6-10.3 1.1,22.5 0.6-1.7 0.5-29.2 0.6-0.4 1.1,8.3 0.6-3.9 0.5-1.4 0.6,2.5 0.6,11.5 0.5-0.9 0.6,4.5 0.5-14.6 0.6,12.5 1.1-25.9 0.6,18.6 1.1-21.8 0.6,37.4 0.5-4.5 0.6-21.3 0.5,12.9 0.6-14 0.6-2 0.5,13.4 1.1-25.4 1.2,28.7 0.5-8.3 0.6,4.2 0.5-23.5 0.6,19.4 0.6,5.3 1.1-13.7 0.5,9.7 0.6-5.5 0.6,1 0.5-8.3 0.6-2.8 1.1,15.7 0.6-9.9 0.5,14.2 0.6-22 0.5,7.9 0.6,1 0.6,29.5 0.5-53.4 0.6,10 0.5,1.9 0.6,12.5 0.6-6.2 0.5-24.5 0.6,39.2 0.5-16.1 0.6,1.4 0.6,5 0.5-2.6 0.6,14.6 0.5-18.2 0.6,21.5 0.6-35.1 1.6,43.1 0.6-24.6 0.6-4.6 0.5,16.5 0.6-29.9 1.7,33.7 0.5-14.4 0.6,0.7 1.1-14.2 0.6,11.2 1.1-15.8 1.1,18.4 0.6-9.9 0.5,12.5 0.6-11 0.5,172.8 0.6,10.4 0.6-15.7 0.5,4.7 0.6-6 0.5,18.8 0.6-22.5 0.6-0.4 0.5,13.7 1.1-3.9 0.6,0.6 0.6-8 0.5,14.2 0.6,3.9 1.1-28.1 0.6,20.9 0.5,5.5 0.6-0.8 1.1-19.3 0.6,17.4 0.5-8.4 0.6-0.4 0.5-2.4 0.6,2.8 0.6-8.4 0.5,3.3 0.6,11.8 0.5-28 0.6,34.7 0.6-0.5 0.5-21.7 1.1,11.6 1.2-8.7 0.5,10.1 1.1,5.5 1.2-2.4 0.5-17.9 0.6,7.8 0.5-2.5 0.6,10.1 0.6-14.9 0.5,23.9 0.6-18.8 0.5-2.1 0.6,11.6 0.6,4 0.5-14.3 0.6,11.2 0.5,1.6 0.6-8.1 0.6,10 1.1-29 0.5,22.5 0.6-12.4 0.6,17.9 0.5-10.6 0.6,3.2 0.5-1 1.2-21.5 0.5,20.8 0.6-13.2 0.5,8.7 0.6-3.7 0.6,11 0.5,2.1 0.6-4.8 0.5,5.2 0.6-7.1 0.6,9.5 0.5-9.8 0.6-1.7 0.5-15.1 0.6,0.7 1.1,20.3 0.6-10.3 0.5-2 1.7,23.6 1.1-34.2 0.6,19.4 0.6-5.5 0.5,0.1 0.6-1.2 0.5-2.8 0.6,25.4 0.6-17.1 0.5-4.9 0.6,4.2 0.5-12.1 0.6,14.5 1.1-19.9 0.6,18.4 0.5-2.6 0.6,2.8 0.6-9.8 0.5,26.6 1.7-28 0.6,2.5 0.5,12.8 0.6-22.3 1.1,20.2 1.1-17.9 1.1,25.7 1.7-22.8 0.6,17.7 0.5-11.7 0.6,13.2 0.6-11.7 0.5,12.8 0.6-8 0.5,9.6 0.6-5.1 1.1,8.9 0.6-29.4 0.5,0.3 1.2,13.9 0.5-16.9 0.6,16 1.1-13.2 0.6,8.3 0.5-11.7 0.6,14.8 0.5,0 0.6-2.7 0.6,11.7 0.5-0.8 0.6-17.1 0.5,22.9 0.6-26.4 0.6,7.8 0.5-8.5 1.1,5.2 0.6-10.6 0.6,16.6 0.5,0.1 0.6-11.4 0.5,16.4 0.6-16.6 2.2,28.6 0.6-35.9 0.6,30.9 0.5-2.7 0.6-19.1 1.1,5.8 0.6,1.1 1.1,9.1 0.5-1.8 0.6-12.3 0.6-4.5 0.5-1.1 1.1,31.4 0.6-25.4 0.6,5.9 0.5,23.2 0.6-37.5 0.5,10.6 0.6,2.5 0.6-2.5 0.5,0.6 0.6-1.1 1.1,1.7 0.6-5.1 0.5,1.9 0.6-19.1 0.5,20.8 0.6,5.9 0.6,0.7 0.5-9.2 0.6,2.3 0.5-1.2 0.6,4 0.6-0.3 1.1-14.4 1.7,22.9 0.5-0.1 0.6-11.1 0.5,2.6 0.6-1.4 0.6,9.2 0.5-9.1 0.6,16.7 1.1-10.8 0.6-12.7 0.5,10.9 0.6,3 0.5-11.2 0.6,3.3 0.6-9.4 0.5,5.4 0.6,1 0.5,3.6 0.6-7.9 1.1,20 0.6-22.4 0.5,12.6 1.7-14 0.6,36 1.1-38.2 0.6,26.9 0.5-20.1 1.1,12.4 0.6-7.1 0.6,14.3 0.5-19.4 0.6-7.2 0.5,23.9 1.2-24.4 1.1,13.8 0.5-16.2 0.6,28.5 0.6-13 0.5-3.5 0.6,3.7 0.5-10.3 0.6,22.6 0.6-15.9 0.5,7.6 0.6-18.4 0.5,1.3 0.6,16.4 0.6,3.2 0.5-9.8 0.6,7.4 0.5-2.7 0.6-9.3 0.6,8.1 0.5-21.1 0.6,16 1.1,10.8 0.6-5.6 0.5-15.1 0.6,5 0.5-8.2 0.6,1 1.1,18.3 1.1-7.2 0.6,15.8 0.6-18.4 0.5,12.5 0.6-8.9 0.5,3.9 1.2-29.2 0.5,35.2 1.1-30.1 0.6,27.3 0.6-6.5 0.5-1.2 0.6-4 0.5,17.7 1.7-38.7 0.6,24.1 0.5,4.5 0.6-6.6 0.6,25.2 1.1-38.7 0.5,14.6 0.6-0.1 0.6,1.8 0.5-3.6 0.6,12.7 0.5-25.8 0.6,18.3 0.6-0.1 0.5-19.6 0.6,15 0.5,3.9 0.6-19.2 0.6,13.5 0.5-7.1 1.1,24.7 1.2-29.7 0.5,17.4 1.1-11.2 1.2,5.8 0.5-6.5 1.1,11.8 0.6-14.7" stroke="#ff7f0e" stroke-width="1.3"/><path d="M325.5,1003.4l0.6-0.8 0.5-40.2 0.6,51 0.5-39.8 0.6,0 0.6,12.6 1.1-34.4 0.5,31.3 0.6,6.8 0.6-22.6 0.5,7.3 0.6,26 0.5-18.7 0.6-1.7 0.6,19.1 1.1-7.3 0.5,7.1 0.6-23.9 0.6,2.6 0.5,34.1 0.6-24.9 0.5-8.2 0.6,20.3 1.1-23.1 0.6,26.9 0.5-19.4 0.6,27.9 0.6-42.9 1.1,29.6 0.5,5.1 0.6-2.9 0.6-40.4 0.5,28.8 1.1-6.6 0.6,15 0.6-31.4 0.5,44.6 0.6-46.9 0.5,22.4 0.6-11.2 1.1-11.4 0.6,28.2 0.5-25.6 0.6,8.8 1.1,2.7 0.6-19.5 0.5,8.6 0.6-11.3 0.6,4.7 0.5,39.5 1.1-41.5 0.6,26 1.1,18.6 0.6-59.1 0.5,39.8 0.6-15.3 0.6,17 1.1-38.1 0.5,42.5 0.6-19.3 1.1,24.5 1.7-43.6 0.6-0.9 1.1,40 0.5-32.2 0.6,9 0.6-0.1 0.5,15.4 1.1-43.5 1.2,9.1 1.1,22.6 0.5-5.7 1.2-5.8 1.1,16.9 0.5-27.7 0.6,20.4 0.6-17 0.5,13.9 0.6-12.1 0.5,2.1 0.6-3.4 0.6,0.5 0.5,22.4 0.6,5.5 1.1-42.1 0.6,34.2 0.5,1.1 0.6-44.5 0.5,52.6 0.6-13.6 0.6-2.5 0.5,3.5 0.6-0.6 0.5-24.1 0.6,11.9 0.6,0.1 0.5,25.2 0.6-34.1 0.5,8.5 0.6,0 0.6-9.5 1.1,11.4 0.5-6.4 0.6,15.3 1.1,8.5 0.6-32.2 0.5,22.1 1.7-34.5 0.6,75.8 0.5-53.6 0.6,0.8 0.6,19.1 0.5-11.6 0.6-45.3 0.5,39.2 0.6-25.5 0.6,13.7 0.5-13.9 0.6,5.7 1.1,34.9 0.6-36.9 0.5,9.7 0.6,2.9 0.5-5.5 0.6,22.7 0.6-12.9 0.5,1.7 0.6,20.2 0.5-4.1 0.6-15 0.6,28.6 0.5-40.9 0.6-0.6 0.5,11.4 0.6-5.1 0.6,28.8 0.5-27.6 0.6-8.2 0.5,3.2 0.6-5.9 0.6,13.4 0.5-28.5 0.6,21.2 1.1-9.3 0.6,25.3 0.5,4.7 0.6-26.4 0.5,27.8 1.2-31.2 0.5,28.4 0.6-1.7 0.5,3.4 0.6-2.9 0.6-40.4 0.5,18.1 0.6-5.9 0.5,39.8 0.6,6.2 1.1-47.9 0.6-2 0.5,43.3 0.6-3.4 0.6-33.2 0.5,5.4 1.1-6.1 0.6,22.9 0.6-15.8 0.5,5.4 0.6-21 1.1,42.6 0.6-43.6 0.5-7.7 1.7,37.4 0.6-27.1 0.5,21 0.6-14.7 0.5-3.8 1.2,38 0.5-34.7 0.6,20.6 0.5,7.5 0.6-21.1 0.6-2.7 0.5,3 0.6-10.2 0.5,34.9 1.2-49.1 0.5,23.3 0.6,5.6 0.5-4.7 0.6-19.5 0.6,19.3 1.1,20.3 0.5-42.9 0.6-0.5 0.6,19.4 0.5-28.7 0.6,33.8 0.5-15.6 0.6,27.8 0.6-4.4 1.1-20.8 0.5-2.1 0.6,20.6 1.1-11.2 0.6,2.2 0.5-0.6 0.6-14.9 0.6-5 0.5,41.2 0.6-43.7 0.5,15.4 0.6-2.2 0.6-0.4 0.5-8.4 0.6,3.1 0.5,30.4 0.6-33.2 0.6,27.2 0.5-20.9 0.6,2.1 0.5,23.9 0.6-21.5 1.1,9 0.6-37.3 0.5,25.5 0.6,7 0.6-29.2 0.5,24.2 0.6,1.2 0.5,25.5 0.6-36 1.1-18.3 0.6,39.9 0.5-28.4 0.6-5.1 1.1,18.8 0.6,22.5 0.5-25.4 1.2,26.1 0.5-32.4 0.6,9.8 0.5,1.3 0.6-30.5 1.1,55.3 0.6,1.8 0.5-37.9 1.2,17.2 0.5,18.6 0.6-17.9 0.5,3.9 0.6-14.1 0.6,10.1 0.5,0 0.6-11.5 0.5,10 0.6-15.4 0.6,51.1 1.1-63.8 1.1,31.1 0.6-12.5 0.5,5.2 0.6-3 0.5-24.9 0.6,25.2 0.6-8.8 0.5,14.4 0.6-1.7 0.5,10.8 0.6-12.4 1.1-5.1 0.6-5.2 0.5-0.7 0.6-7.9 0.6,11.7 0.5-21.1 0.6,9.5 0.5-10.9 0.6,19.5 0.6-17.6 1.1,38.9 0.5-22.5 0.6,1.9 0.6,17.3 1.1-12 0.5-39.7 0.6,26.8 0.6-20.8 0.5,11.8 0.6-2.2 0.5,3.5 0.6,31.2 0.6-37.6 0.5,30.6 0.6-19.9 0.5,7.2 0.6-23.8 0.6,5.6 0.5-8.9 0.6,18.2 0.5,6.3 1.2-33 0.5,25.4 0.6,6.3 0.5,17.2 1.7-26.6 0.6,0.5 0.5,9.7 0.6-3.4 0.6-19.3 0.5-4.4 0.6,8.6 0.5-4.7 0.6,3.7 0.6-8.1 0.5,41.7 1.1-20.7 0.6-2.2 0.6-13.2 0.5,43.1 0.6-27.3 0.5-1.8 0.6,12.6 1.1-23.1 1.1,14.9 0.6-4.7 0.6,4.2 0.5-14.6 0.6,13.9 0.5-14.9 0.6,20.7 0.6-7.3 0.5,14.6 1.1-27 0.6,24.9 1.1-15.6 0.6,6.1 0.5-16.4 0.6,28 0.6-28.7 1.1-11.3 0.5,23.2 1.2,20.2 0.5-30.9 0.6-2.1 0.5,7 0.6-0.9 0.6-4.7 1.1,28.8 0.5-0.7 0.6-9 0.6,1.6 0.5,9 0.6-16 0.5,8.1 0.6-23.3 0.6,9.8 0.5-12 0.6,28.6 0.5-3.2 0.6,6.5 1.1-64.5 0.6,39.2 0.5,8.7 0.6-9 0.6,3.2 0.5-13.8 1.7,38.5 0.6-31 0.5-9 1.1,25.4 0.6-6.4 0.6-1.7 0.5-12.5 0.6,8.6 0.5-17 0.6,18.5 0.6,5.9 0.5-34.2 0.6,38.6 0.5-3.1 0.6-39.3 0.6,24.4 0.5-20.7 0.6,58.2 0.5-51.4 0.6,17 0.6-1.7 0.5-5.6 0.6,44.1 1.7-82.4 0.5,54.1 0.6-42.7 0.5,23.2 0.6-5.6 0.6,26.9 0.5-21.7 0.6,19.8 0.5,4.6 0.6-34.2 0.6,26.8 0.5-2.9 0.6-16.7 0.5,20.3 0.6,5.9 0.6-20.5 0.5-0.9 0.6-17.3 0.5,35.9 0.6-25.4 0.6-0.2 0.5,15.5 1.1-6.8 0.6,14.1 0.6,3.8 0.5-28 0.6,24 0.5-1.5 0.6-24.3 0.6,17.9 0.5-2.1 0.6,13.4 0.5-2.5 0.6,1.8 0.6-0.3 0.5-36 1.1,48.2 1.2-41.6 0.5,25.3 0.6-15.4 1.1,22.9 0.6-16.7 0.5,6.3 1.1-24.1 0.6,10.4 0.6-37.2 0.5,50.2 0.6-32.9 0.5,12.3 0.6-13.6 0.6,11.6 0.5,37.6 1.1-45.2 1.2,31.6 1.6-35.4 0.6,24.7 0.6-9.8 0.5,13.9 0.6,3.4 0.5-9.5 0.6-25.7 1.1,21.7 1.1-11.5 1.2,12.8 0.5-2.1 0.6-13 0.5,13.9 0.6-16.3 0.6,35.8 1.6-34.1 0.6,20.4 1.1-17.3 1.1,13 0.6-4.9 0.6,7.8 0.5-23.8 0.6,4.8 0.5-6 0.6-19.3 1.7,30.9 0.5-32.5 0.6,27.1 0.6,5.9 0.5-20.9 1.1,20.2 1.2-30.8 0.5,24.3 0.6-3.7 0.5,16.7 0.6-5.9 0.6-18.8 0.5,13 0.6-3.2 0.5-13.6 0.6,19 0.6-25.8 0.5,29.5 1.1,1.7 0.6,9.2 0.6-28.1 0.5,7 0.6-18.5 0.5,28.3 1.2-28.5 0.5,20.9 0.6-0.9 0.5,31.3 0.6-60.3 0.6,27.8 0.5-11.3 0.6,16.2 0.5-12 0.6,20.1 0.6-26 1.1,14.7 0.5-11.1 0.6,29.9 0.6-26.7 0.5,7.9 0.6-25.8 1.1,21.7 0.6,1.2 0.5-44.6 0.6,53.7 0.5-39.5 0.6,13 0.6,1.7 0.5-24.6 1.1,41.4 0.6,5.2 0.6-20.6 0.5,17.5 0.6-17.6 0.5,20.3 0.6-21 0.6,1.8 0.5,17.2 0.6,1.3 1.1-6.1 0.6,0.7 0.5-33.5 1.1,29.4 0.6-0.5 0.6,6.3 0.5-14.9 1.1,12.5 0.6-0.1 0.6-4.1 0.5,8.6 0.6-16.2 0.5,13.7 1.2-38.4 1.6,50.1 0.6-45.3 0.6,23.3 0.5-9.4 0.6-0.6 1.1-4.3 0.6,4 0.5-1.2 0.6,8.7 0.5,207.3 0.6,6.9 0.6-0.5 0.5-2.9 0.6-22.6 0.5,39.9 0.6-10.7 0.6-2.5 0.5-7.4 0.6,4.2 0.5-17.4 0.6,33.7 0.6-36 0.5,32.5 1.1-19.6 0.6,4.9 0.6,1 0.5-1.2 0.6-3.5 0.5-6.3 0.6,5.8 0.6,17.5 0.5-5.6 0.6-22.6 0.5-6 0.6,10.4 0.6-1.6 0.5,7.9 0.6-18.9 0.5,28 0.6-2.6 0.6,4.5 0.5-25.1 0.6,22.1 0.5-11.1 0.6,19.9 0.6,0.8 0.5-26.3 0.6,2.9 0.5-1.7 2.3,20.2 1.1-26.4 1.1,27.9 0.6-11.5 0.5,7.8 0.6,1.5 0.6-11.1 1.1,11.9 0.5-29.6 0.6-2.2 0.6,16.6 0.5-14.4 0.6,20.4 0.5-4.6 0.6-14.3 0.6,10.5 0.5-5.6 0.6,37.7 0.5-32.4 0.6,7.5 0.6-3.5 0.5,14.8 1.1-22.7 0.6,0 1.7-5.9 1.1,13.9 0.6,3.5 0.5-1.8 0.6,5.7 0.5,0.1 0.6-9.7 0.6,23.1 2.2-36.2 1.7,16.2 0.5-17.2 0.6,4.1 0.6,14.4 1.6-17.2 0.6,13.1 0.6-19.7 0.5,3.4 0.6,16.7 0.5-2.6 0.6,7.6 0.6-0.4 1.1-25.1 0.5-0.3 0.6,13 1.1,8.5 0.6-11.6 0.5,9.3 0.6-12.6 0.6,8.7 0.5-4.6 0.6,8.5 0.5-27.1 1.7,30.3 0.6-15.5 0.5-2.2 0.6,19.9 1.1-34 0.6,19.6 0.5,5.9 1.2-23.8 0.5,23.8 0.6-0.2 1.1-5.8 0.6-12 0.5,9 0.6,26.8 0.5-28.3 0.6,0.3 0.6-2.7 1.1,7.7 0.5-6.9 1.2,23 0.5-14.4 0.6,8 0.5-29.6 0.6,18.9 0.6-17.8 0.5,30.7 0.6-1.6 0.5-17.4 0.6,22.5 0.6-11.4 0.5,13.6 0.6-25.1 0.5,22.6 0.6-16.9 0.6,17.2 0.5-24 0.6-6.3 1.1,21.5 0.6-15.1 0.5-5.9 0.6,2.1 1.1-12.3 0.6,17.6 0.5,5 0.6,3.8 0.5-6.7 1.2,5.2 1.1-26.9 0.5,29.3 1.2-4.9 0.5,7 0.6-22.2 0.5,12.7 0.6-8.1 0.6,23.3 0.5-23.2 1.1,21.1 0.6-24.7 0.6-1 0.5,7.5 0.6-2.7 0.5,14.9 0.6-21.2 0.6,13.3 0.5-7.7 0.6-1.4 0.5,1 0.6,12.7 0.6-10.8 0.5,1.3 0.6-11.2 0.5,20.4 0.6-18.3 1.1,9.3 0.6-19.6 1.1,25.5 0.6-9.2 1.1,15.4 0.5-7.2 0.6-0.3 0.6-23.5 0.5,9.5 0.6,34.1 0.5-24.2 0.6,5.6 1.1-9.6 0.6,1.3 0.5-4.2 0.6,12.7 0.6-23.5 0.5,16.3 0.6-14.6 0.5,13.9 0.6-6.4 0.6,15.3 0.5-22.1 1.1,15.7 0.6-8.4 0.6-1.1 0.5,21.2 0.6-8.5 0.5,2.4 0.6-19.5 1.1,15.6 0.6,0.3 0.5-7.2 0.6,23.9 1.1-41.4 0.6,31.4 1.1-3.2 0.6-16.8 0.5,12.5 0.6-28 0.5,21.9 1.2,9.2 0.5-19.1 0.6-4.3 0.5,9.5 0.6-12.2 0.6,0.5 0.5,9.2 1.1,9.3 0.6-8.3 0.6,5.9 0.5-19.6 1.1,17.1 0.6,2.2 1.1-15.5 0.6,7.9 0.5-8 0.6,15.5 1.1-12.1 0.6,4.7 0.5-2.2 0.6-6.8 0.6,10.6 0.5-10.8 0.6,15.9 0.5-10.9 0.6,9.6 0.6-0.7 1.1-17.9 0.5,14.6 0.6-2.5 0.6-13.2 0.5,22.4 0.6-18.4 0.5,21.9 0.6,7.5 0.6-23.9 0.5,6.6 0.6,2.2 0.5,19.9 0.6-29.4 1.1,16.1 0.6-11.4 0.5,11.3 0.6-4.6 0.6,0.3 0.5-19 0.6,11.4 0.5-15 0.6,22.1 0.6,4 0.5-31.5 0.6,33.2 0.5-27.7 0.6,24.5 0.6-19.5 0.5,15.3 0.6-24 0.5-5.1 1.7,24.3 1.1-26.5 0.6,27 0.6,7 0.5-31.2 0.6,21.2 0.5-10.3 0.6,5.6 0.6-1 0.5,5.6 0.6-1.6 0.5,16.1 0.6-11.9" stroke="#2ca02c" stroke-width="1.3"/><path d="M325.5,960.3l0.6,8.2 0.5,2.5 1.1-10.4 0.6,13.9 0.6-12.4 0.5,0.1 0.6-16.4 1.1,28.5 0.6-15 0.5,0.6 1.1,31.1 0.6-36.7 1.1,14.1 1.7-24 0.6,21.3 0.5-19.3 0.6,15.1 0.5-0.6 0.6,0.9 0.6-0.4 0.5,0.8 0.6,5.1 0.5-6.8 0.6,9.8 0.6-15.2 0.5,11.6 0.6-11.1 0.5,5.9 0.6,16 0.6-28.7 0.5,8.5 1.1,5.9 0.6-20.6 0.6,19.6 0.5-11.7 1.1,22 0.6-19.9 0.6,21.6 0.5-19.1 0.6,0.3 0.5,1.7 0.6,9.4 0.6-20.8 0.5-3.7 0.6,25.9 0.5-5.2 0.6-19.5 0.6,19.8 0.5-13.5 0.6,18.7 1.1-12.1 0.6-2 0.5,18.3 0.6-3.9 1.1-22.6 0.6,7.3 0.5,1.4 0.6-0.8 0.5,15.9 0.6-15.7 0.6-4.9 0.5,2.9 0.6,16.9 0.5-2.1 0.6-20.1 0.6,24.1 0.5-3.1 0.6-25.7 0.5,23.9 0.6-1.7 0.6-13.3 0.5-1.5 1.1,21.3 1.2-15.6 0.5,10.4 0.6,0.5 0.5-21.6 0.6,6.8 1.1-3.6 0.6,18.3 1.1-21.4 0.6,4.9 0.5,17.7 0.6,3.8 1.1-20.5 0.6,7 0.5-4.5 0.6,14.8 0.5-20.3 0.6,15 0.6-18 1.1,39.6 0.5-27 0.6,6.5 0.6-0.4 1.1-18.7 0.5,2.2 0.6-5.4 1.1,31.4 0.6-12.7 0.5,3.2 0.6-2.1 0.6-32.5 1.1,34.9 0.5-20.9 1.2,24.4 0.5-24.4 0.6,15.8 0.5-5.9 0.6-21 0.6,31.9 0.5-19.9 1.1,20.7 0.6-8.4 0.6-4.2 0.5-0.2 0.6,16.6 0.5-23.1 0.6,16.3 0.6-11.3 0.5,1 0.6,7.2 0.5-11.2 0.6,12.7 1.7,10.8 0.5-11.3 0.6,14.4 0.6-17.8 0.5,1.7 0.6-21.2 0.5,27.1 0.6-22.4 0.6,7.4 0.5,0.7 0.6,8.9 0.5,1.8 1.7-13.7 0.6,10.4 0.5-20.1 0.6-1.3 0.6,40.1 0.5-25.2 0.6,2.3 0.5,8.3 0.6,16.4 1.7-32.9 0.5,2.3 0.6-0.7 0.6,7 0.5-12.1 0.6,5.2 0.5-6.4 1.7,25.5 0.6-29.8 0.5,20.5 1.2,14.8 0.5-26.2 0.6,18.8 0.5-14.1 0.6-2.1 0.6-11.2 1.1,32.5 0.5-27.3 1.2,14.4 0.5-5.9 0.6-18.6 1.1,24.4 1.1-12.1 0.6,2 1.1,0.2 0.6,14.4 0.5-17.2 0.6-4.3 1.1,10.6 0.6,0 0.5-2.7 0.6,1.2 0.5,16.5 1.2-28.3 0.5,15.2 0.6,1.9 0.5-11.1 1.2,12.5 1.1-23.5 0.5-1.3 0.6,16.2 0.6,3 0.5-13.3 0.6,7 0.5-0.9 1.2,17.8 0.5,1.3 0.6-13.3 0.5,9.7 0.6-18.4 0.6-1.3 0.5-5.4 0.6,13.2 0.5-17.9 1.2,14.9 0.5-3.7 1.1,37.7 0.6-40.8 0.6,5.3 0.5-11.6 0.6,11.5 1.1,9.3 0.6,1.2 0.5-7.7 0.6,19.2 0.5-6.8 0.6-19 0.6,27.8 1.1-14.1 1.1-6.5 0.6-7.6 0.5,5.4 0.6-3.1 0.5,11.4 0.6-6 0.6,7.1 1.1-12.7 0.5,0.7 0.6,23.1 0.6-7.3 0.5-30.4 0.6,39 0.5-20.5 0.6,11.9 0.6-9.3 0.5,3.5 0.6-6.4 0.5,11.3 1.2-32 0.5,44.8 0.6-15.6 0.5,6.5 1.2-28.5 1.1,0.7 1.1,18 0.6-16.4 0.5,16.8 0.6,1.6 0.5-8.3 0.6,12.5 0.6-10.2 0.5,7.2 1.1-18.6 0.6,14.7 1.1-14.9 0.6,16.8 0.5-6.9 0.6,2.7 0.6-21.1 0.5,22.3 0.6-6.1 0.5,14.8 0.6-4.8 0.6-14.8 0.5,8.5 0.6-10.1 0.5,6.5 0.6-24.7 0.6,27.5 0.5-11.6 0.6,16.1 0.5-2.8 0.6,10.6 0.6-40.5 0.5,45.8 0.6-21.6 0.5,5.4 0.6-12.1 0.6,12.9 0.5-23.7 1.1,13 0.6,0.2 0.6-5.6 0.5,6 0.6-11.4 1.1,15.6 0.6-4.8 0.5,2.1 0.6-9.6 0.5,13.9 0.6-3.6 0.6,13.2 0.5-18.9 1.1,12.8 0.6-23.2 1.1,27.7 0.6-22.4 1.1,41 0.6-33.4 0.5,3.4 0.6-1 0.5,2.7 0.6,5.8 0.6-9 0.5,17.4 1.1-24.8 0.6-1.4 0.6,14.4 0.5-23.6 1.1,22.9 0.6-6 0.6,8.2 0.5-15.1 0.6,17.4 0.5-2.3 0.6,4.2 1.1-8.5 0.6-20.9 0.5,15.6 0.6-9.1 0.6,10.9 0.5-8.8 0.6,19.2 0.5,0.7 0.6-29 1.1,33.2 0.6-21.2 0.5,7.7 0.6,0.7 0.6-10.7 0.5,19.8 0.6-23.8 1.7,24.7 0.5-30.1 1.1,30.2 0.6-11.9 0.6-6.1 0.5-1.5 0.6-8.4 1.1,14.8 0.6-22.3 0.5,2 0.6,30.4 0.5-20.5 0.6,15.2 0.6-20.4 0.5,23.6 1.1-24.6 0.6,12 0.6-7.5 0.5,17.4 0.6,5.2 0.5-0.7 0.6-17.5 0.6,12.2 0.5-20.7 0.6,17.5 0.5-16.4 1.2,23.5 1.1-15.5 0.5-0.1 0.6,5.7 0.6-11.9 0.5,1.5 0.6,0 1.1,29.6 0.6-26.3 0.5,13.7 1.1-5.8 0.6-5.6 0.6,20.1 1.1-30.4 0.5,27.3 1.2-28.4 1.6,12.3 0.6,15.3 0.6-15 0.5,10.3 0.6-10.6 1.1,12.5 1.1-21.9 0.6,15.1 1.1-12 0.6,2 0.5,17.2 1.1-15.9 0.6,3.2 0.6-17 1.1,25.6 0.5-15.3 0.6-4.3 0.6,4.4 0.5,1.4 0.6,18.6 1.1-19.7 0.6,9.6 0.5-0.6 0.6-7.8 0.5,10.6 0.6,2.4 0.6-7.2 0.5-0.7 0.6-9.2 1.1,19.3 0.6-15.9 0.5,12.3 0.6-15 0.5,12.7 0.6-11.2 1.1,7.3 0.6,10.4 1.1-26.2 0.6,11.8 0.5-9.4 0.6,10.5 0.5,0.5 0.6,9.4 0.6-13.2 0.5,11.8 0.6-0.2 0.5-18.2 0.6,19.7 0.6-32 0.5,22.2 0.6,5.4 0.5-18.5 0.6,22.3 0.6-10.8 0.5,0.9 1.1-16.5 1.2,29 0.5,0.3 1.1-20.8 0.6,6.5 0.6-1.4 0.5,5.6 0.6-16.2 0.5,23.9 0.6-29.6 1.7,18.7 0.5,2.5 0.6-2.9 0.6,5.2 0.5-1.2 0.6,3.6 0.5-15.2 0.6,6.3 0.6-3.4 1.1,16.1 0.5-3.1 0.6-11.1 0.6,13.5 0.5-17.2 0.6,14.8 1.1-11.5 1.1,22.2 0.6-31.2 0.5,12.7 0.6,4.5 0.6-21.6 0.5-5.6 0.6,20.6 0.5-2.8 0.6-22.5 0.6,31.3 0.5-17.6 0.6,2.1 0.5,14.8 0.6,3.9 0.6-2.1 0.5-8.9 0.6-2 0.5-21.9 0.6,35 0.6-11.9 0.5,9.4 0.6-16.1 0.5,4.2 0.6,16.7 1.7-19.9 0.5,1.7 0.6-1.4 0.6,6.2 0.5-5.7 0.6,4.9 0.5-8.7 0.6,3.7 0.6,14.1 0.5-8.2 0.6,6.9 1.1-13 1.7,11 0.5-20.2 1.2,23.5 0.5-4.8 1.1-24.3 1.2,22.6 0.5-11.6 0.6,24.3 0.5-24.2 0.6,10.2 0.6-4.9 0.5,14.4 0.6-15.6 0.5,15.9 0.6,3.4 0.6-30.2 0.5,26.3 0.6-21 0.5,14.3 0.6-4.4 0.6-1.1 0.5-10.9 1.1,19.1 0.6-3.5 0.6-17.9 0.5-0.3 0.6,17.5 0.5-13.2 0.6,9.2 0.6-10.5 0.5,19.4 0.6-17.6 1.1,20.1 0.6-18.3 0.5,0.3 1.1,27.7 0.6-21.2 0.6-5.5 0.5,9.4 0.6-6.1 0.5,4.9 0.6,1.2 1.1-17.3 1.7,18.3 0.6-8.6 0.5,23.2 0.6-22.4 0.5,2 0.6-0.9 0.6,2.3 0.5-0.7 0.6,12 0.5-20.4 0.6,9.4 0.6-3.3 0.5,4.8 0.6,138.4 0.5-75.2 0.6,7.3 0.6,0.2 1.1-17 0.5,15 1.2-16.5 0.5,18.7 0.6-13.3 0.5,10.1 0.6-8.4 0.6,7.6 0.5-7.3 0.6,14.7 0.5-2.3 0.6,1.1 0.6-2.7 0.5-12.2 0.6,5.7 0.5-2.1 0.6,7.6 1.1-5.6 0.6,0.5 0.5,7.9 0.6-1.5 0.6,5.8 0.5-15.8 0.6-2.7 0.5-7.3 0.6,43.1 0.6-34 0.5,2.3 0.6-18.1 0.5,26.9 0.6,2.8 0.6-8.7 0.5,14.4 0.6-0.3 0.5-17.3 0.6,19.5 0.6-4.8 0.5-20 0.6,5.2 0.5,16.3 0.6-23.4 0.6,11.4 0.5,3.7 0.6-4.3 0.5,2.1 0.6-11 1.1,17.7 0.6-3.1 0.5-11.3 1.7,27.3 0.6-28.1 0.5,7.3 0.6,1.8 0.6,5.8 1.1-7.4 0.5,9.5 1.2-24.8 0.5,19.4 0.6-4.7 0.5-13.7 0.6,12.8 0.6-12.8 0.5,4.7 0.6,0.8 0.5,9.5 0.6,2.4 0.6-15.5 0.5,10.2 0.6,2.2 0.5,18 1.2-40.9 0.5,16.1 0.6-10 1.1,27.4 1.1-27.7 0.6,13.8 0.5,4 0.6-1 0.6,8.7 1.6-18.7 0.6,1.6 1.1,23.4 0.6-13.8 0.5,3.6 0.6-14 0.6,16.1 0.5-14.2 0.6,9.1 0.5-13.7 1.2,27 0.5,3.3 0.6-23.2 0.5,11.6 0.6-17.4 0.6,8.8 0.5-15.9 1.7,33 0.6-21.8 0.5,6.1 0.6,0.9 0.5-26.3 1.2,31.6 0.5-14 0.6,19.2 1.1-21 0.6,18.9 0.5-11.5 1.1-1.6 0.6,10 0.6,3.8 1.1-18 0.5,14.2 0.6-15.8 0.6-2.6 0.5,6.7 0.6-6.1 0.5,0.3 0.6-2 0.6,8.1 1.1-0.8 0.5-7.5 0.6,14.9 0.6-17.5 0.5,21 0.6-25.2 0.5,11.3 0.6-18 0.6,21.2 0.5-3.7 0.6,19.6 0.5-11.3 0.6-4.2 1.1-4.1 1.1,6.1 0.6-8.7 0.6,21.4 1.1-19.3 0.5,6.6 0.6-11.1 0.6,16.3 0.5-2.7 1.1-18.9 0.6,26.8 0.6,3.6 0.5-4.4 0.6,0.3 1.1-19.1 0.6,8.3 1.1-5.8 0.5,2.2 1.2,1.1 0.5-7.9 0.6,19.7 1.1-12.2 0.6-21.3 0.5,31 0.6-14.3 0.5,13.1 0.6-5 0.6,5.3 0.5-23.2 1.1,20.6 0.6-12.9 0.6,14.6 0.5-8.5 0.6,14 1.1-14.8 0.6,0 0.5,10.3 0.6-0.7 1.1,11.7 1.1-28.3 0.6,5.6 0.5-0.9 0.6,4.9 1.1,0.3 0.6-15 0.5,17.5 0.6-13.5 0.6,22.8 0.5-3 0.6-8.8 0.5,12.4 0.6-26.5 0.6,11.3 0.5-1.7 0.6,7.6 0.5-8.3 0.6,9.8 0.6-17.4 0.5,0.2 0.6,17.1 0.5,1.6 0.6,5.5 0.6-0.5 0.5-23.7 0.6,4 0.5-7 0.6,9.1 0.6-3.3 0.5,1.8 0.6,10 1.1-12.6 1.1,16.4 0.6,0.2 0.5-34.4 0.6,33.2 0.6-1.8 0.5-6.3 0.6,1.2 0.5-9.7 0.6,12.4 0.6-9.4 0.5,5 0.6,0 0.5,2.2 0.6,6 0.6-3.2 0.5,5.6 1.1-11.1 0.6-1 0.6,11.8 1.1-7 0.5-14.4 0.6,9.6 0.6-1.4 0.5-7.5 1.1,15 0.6-19 0.6,15.6 0.5-11.5 0.6,6.8 0.5-2.1 0.6-5.8 1.1,23.7 0.6-15.2 1.1,5 0.6-2.4 0.5,13.7 0.6-13.5 0.5,2.4 0.6-5.1 1.1,5.7 1.1-12.5 1.2,16.8 0.5-1.5 0.6-16.4 0.5,25 0.6-14.7 1.1-3.6 0.6,21.5 0.5-19.2 0.6,20.9 0.6-14 1.1,13 0.5-32.2 1.2,29.2 1.6-20 1.2,16.4 0.5-24.1 0.6,10.4 0.5-11.3 0.6,2 0.6,9.1 0.5-9.2 0.6,12.5 0.5-10 0.6,23.1 0.6,1.6 1.1-20.4 1.1,10.7 0.6-1.1 0.5-0.4 1.1-14.3 0.6,0.7" stroke="#d62728" stroke-width="1.3"/><path d="M325.5,832.4l0.6,130.5 0.5-10.9 0.6,10 0.5-9.5 1.2,16.2 0.5-10.1 0.6,4.1 0.5-4.8 0.6-1 0.6,5.6 0.5-4.6 0.6,6.5 0.5-9.8 0.6,13.2 0.6,3.5 0.5-18.5 0.6,23 0.5-13.2 0.6-0.5 0.6-8.1 0.5,8.2 0.6,0 0.5,12.2 0.6-21.6 0.6,15.6 0.5-8 0.6,5.9 0.5-14.9 0.6,15.8 0.6,3.2 0.5-20.5 0.6,15 0.5-6.9 0.6-1.6 0.6,14.8 0.5-19.5 0.6,15.6 0.5-8.5 0.6-3 1.1,10.1 0.6-14.2 0.5,14 0.6,3.2 0.6-19.3 0.5-0.6 0.6,23.9 0.5-12.9 0.6-1.7 0.6,21.8 1.1-30.9 0.5,16.5 0.6-18 0.6-5.3 0.5,16.5 0.6,4.3 0.5-6.2 0.6,11.5 0.6-21.2 1.1,20.8 1.1-8.7 0.6-11.1 0.5,1.9 0.6,11.4 0.5-6.4 0.6,4.7 0.6-7.3 0.5,5.8 0.6-18.7 0.5,12.7 1.2,11.7 0.5,2.6 0.6-16.7 0.5-0.8 0.6-6 0.6,20.2 0.5-14 0.6,15.4 0.5-15 0.6,0.8 1.1,6.6 0.6,1.3 0.5-1 0.6,12.1 0.6-20.4 0.5,14 0.6-10.2 0.5,1.6 0.6-6.1 0.6,4.9 0.5,0.3 1.1-7.8 0.6,10.6 0.6,3.7 0.5-7.2 0.6,1 0.5-6.7 1.2,4.2 0.5-7.6 0.6,6.3 0.5-2.6 0.6,7.8 0.6-14.9 1.1,18.7 0.5-0.4 0.6-20.8 0.6,11.8 1.1-16.7 0.5,17.1 0.6-1.4 0.6-4.1 1.1,20.3 0.5-28.7 0.6,20.6 1.1-18.1 0.6,10.9 0.5-6.8 0.6,4.7 0.6,12.3 1.1-10.8 0.5,8.1 0.6-15.2 0.6,4.7 0.5,15 0.6-16.1 0.5,7.7 0.6-1.7 0.6-8 0.5,19.9 1.1-16.7 0.6,13.5 0.6-21.5 0.5,35.4 0.6-33.8 0.5,2.5 0.6,10.8 0.6-5.7 0.5,6.3 0.6-20.5 0.5,14.7 0.6-4.1 0.6,1.5 0.5,13 0.6,4.2 1.1-26.3 1.1,12.2 0.6-4.8 0.5,6.1 0.6-12.9 1.1,7.3 0.6-14 0.5,20.8 0.6,2.6 0.6-5.4 0.5,2.2 0.6,0.2 0.5-9.3 0.6,0.5 0.6,17.5 0.5-8.1 0.6-1.3 0.5,10.2 0.6-19.2 0.6,3.8 0.5-2.9 0.6,8.7 0.5-0.5 0.6-6.5 0.6,1.2 0.5,4 0.6-7.4 0.5,9.1 0.6-12.7 1.7,16.9 1.1-18.6 0.6,8.2 0.5-11 0.6,5.2 0.5-4.3 0.6,21.4 1.1-12.5 0.6-1.1 1.1,4.8 0.6,13.6 0.5-25.7 0.6,2.7 0.5,9.6 0.6-4.1 0.6,5.1 0.5-12.8 0.6,9.5 0.5-10.9 0.6,12.8 1.1,8.7 0.6-16.2 0.5,8.1 0.6-9.3 0.6-4.1 0.5,5.8 0.6-9.3 0.5,14.7 0.6,3 0.6-8.6 0.5,3.3 0.6-13.6 0.5,25.8 0.6-5.1 0.6-18.7 0.5,16.1 0.6-4.4 0.5,2 0.6-3.6 0.6-16.6 1.1,15.9 0.5-14.9 0.6,22.2 1.1-22.5 0.6,24.6 0.5-2.7 0.6,0 1.7-19.3 0.5,2.7 0.6-1.5 1.1,14.3 0.6,2.7 0.5-7.1 0.6,7 0.6,2.3 0.5-13.8 0.6,10.9 0.5-4.4 0.6-18.6 0.6,12.2 0.5-0.3 1.1,10.9 0.6-11.6 0.6,7.6 0.5-2 0.6,3.4 0.5-7.9 0.6,1.1 0.6,18.8 1.1-15.7 0.5-16 0.6,21.8 1.1-16.2 0.6-0.1 0.5,12.5 0.6-11.2 1.7,10.6 0.5,9.8 0.6-9.7 0.6,7.9 0.5-18.8 0.6,3.3 0.5-10.4 0.6,25.1 0.6,0.7 0.5-10.7 1.1-8.5 0.6,15.7 0.6,5.1 0.5-6.4 0.6-34 0.5,33.9 0.6-3 0.6-11.4 0.5,1.8 1.1,28.4 0.6-28.8 0.6,8.9 0.5-14.5 0.6,9.6 0.5-4.1 0.6,19.1 0.6-15.6 1.1,3.9 0.5-6.9 0.6-1.4 0.6,7.8 1.1-15.4 1.1,12.6 0.6-3.6 0.5,3.7 1.1-8 0.6,8.8 1.1-15.8 0.6,14.4 0.5,4.2 0.6-2.9 0.6-8.4 0.5,2 1.1,23.1 0.6-24.1 1.1,0.4 1.1,20.3 0.6-14.4 0.6,2.9 1.1-18.1 1.1,14 0.6-8.6 0.5,10.2 0.6-10.1 1.1,9.4 0.6-7 0.5,1.7 0.6-9.7 0.5,11.2 0.6,0.4 0.6-12.1 0.5,7.9 0.6,0.9 0.5-14 0.6,34.4 1.1-14.6 0.6-15.1 0.5-1.9 1.7,21.9 0.6-15.4 0.5,1.2 0.6,7.3 1.1-17.7 0.6,19.7 0.5-9.5 0.6,12.3 0.6-11.8 0.5,11.6 1.1-24.8 0.6,19.2 0.6-16 1.1,1.9 1.1,20.3 1.1-16.1 0.6,9.3 1.1,5.2 0.6-33.1 0.5,39.3 0.6-22.2 0.5,10 0.6-13 0.6-0.8 0.5,17.8 0.6-7.5 0.5,1.9 0.6-7 0.6,5.3 0.5-7.3 0.6,2.2 0.5,8.4 0.6-13 0.6,4.5 0.5-0.4 0.6,7.2 0.5-9 0.6,8.7 0.6-13.4 0.5,6.8 0.6,21 0.5-22.8 0.6,0.7 0.6,3.6 0.5-6 0.6,17.8 0.5-14.3 0.6,8.5 0.6-7.7 1.1,11.5 0.5-7.4 0.6,10.3 0.6-13.4 1.1-9.8 1.1,13.4 0.6-2.2 0.5-0.7 0.6-10.6 0.5,16.9 0.6-3.4 0.6,11.9 0.5-25.7 0.6,18.8 0.5,0.5 0.6,5.2 0.6-17.1 0.5,4 0.6,0.6 0.5,8 1.2-19.9 0.5,20.8 1.1-22.4 0.6,19.1 0.6-13.8 0.5-0.2 0.6,11.1 1.1-11.3 0.6-1.7 1.1,17.9 0.5-12.7 0.6-0.1 1.1-9.6 1.1,3.6 0.6,9.1 0.6-12.3 0.5,0.7 0.6,11.5 0.5,1 0.6,6.7 1.1-10.9 0.6,1.8 0.5-6.5 1.2,11.1 0.5-16.3 0.6,22.5 0.5-21.1 0.6,7.3 0.6-1.7 0.5,7.2 1.1-17.8 0.6,17.2 0.6-7.4 0.5,1.3 0.6,24.6 0.5-19.2 0.6-7 0.6,7.6 0.5-3.9 0.6,7.8 0.5-22 0.6,10.2 1.1,8 0.6-13.2 0.5,6.1 0.6-5.3 0.6,1.6 0.5,15 0.6-14.3 0.5,22.1 0.6,2.5 1.1-34.1 0.6,8.9 0.5-0.1 0.6,10.8 1.1-10.7 0.6,20.2 1.7-23.4 0.5-2.6 0.6,13.9 0.5-16.3 0.6,10.3 0.6,1.7 0.5-10.9 0.6,16.1 0.5-1 0.6,4.5 0.6-3.6 0.5,11 0.6-36.5 0.5,13.7 0.6-9.4 0.6,26.6 0.5,2.1 0.6-25.5 0.5,13.4 1.2,1.3 0.5,6.6 0.6-4.8 0.5-22.1 0.6,24.7 0.6-19.9 0.5,8.3 1.1-6.2 0.6,16.5 0.6-14.5 0.5,3.2 0.6-17.8 0.5,17.6 0.6-4.7 0.6,6.2 0.5-1.4 0.6,0.7 0.5,2.2 0.6-8.5 0.6,5.6 1.1-4.7 0.5,12 1.2-7.8 0.5-1.5 0.6-9.8 0.5,29.9 0.6-10.4 0.6,1.5 0.5-8.1 0.6,2.4 0.5,11.3 0.6-6.1 0.6-0.1 0.5,6.4 1.1-8.9 0.6-13.1 1.1,12 0.6,1.7 0.5-4.2 0.6-11.1 0.6-0.8 0.5,16.5 1.1-7.9 0.6-1.3 0.6,10.4 0.5-12.8 1.1-2.7 0.6-7.7 1.7,25.2 0.5-10.6 0.6,4.6 0.6-13.8 1.1,18 0.5-5.8 0.6-15.5 0.6,16.6 1.1-13.5 1.1,18.6 0.6,0.2 0.5-4.6 0.6-10 0.5,1.3 0.6,7.8 0.6-6 0.5-1.9 0.6,14.8 0.5-3.3 1.2-18.5 0.5,10 0.6-3.1 0.5-10.2 0.6,17.7 0.6-6.1 0.5,1.9 0.6-16.7 0.5,18.3 0.6,2.5 1.1-29.5 0.6,15.2 0.5-2.9 0.6-0.2 1.1,11.2 0.6-15.5 1.1,22.4 1.1-9 0.6,6.4 0.5-6.1 0.6,2.7 0.6,0 0.5,8.1 0.6-23 0.5,20.2 0.6,1.3 0.6-15.2 0.5,6.5 0.6-0.6 1.7,197.3 0.5-99.4 0.6-1.6 0.5-6.7 1.2-6.6 0.5,11.5 0.6-6.7 0.5,10.5 1.2-8.1 0.5,9.3 0.6-20.8 0.5,15.5 0.6,3.4 0.6,0.1 1.1-19.2 0.5,22.2 0.6-11 0.6,7.5 0.5-12.5 1.1,22 1.2-14 0.5,0.2 0.6-13.5 1.1,18.5 0.6-13.4 0.5,6.7 0.6-16 0.5,17 0.6,2.5 1.1-17.8 0.6,15.8 0.5-14.1 0.6,10.6 0.6-1.4 0.5-7.7 0.6,1.4 0.5,3.5 0.6-9.4 1.1,31.5 0.6-23.2 1.1,6.7 0.6-10.4 0.5,24.8 1.1-25.5 0.6,7.1 0.6-7 1.1,18 0.5-0.1 0.6-10.2 0.6,10.9 0.5-21.3 0.6,18 0.5,6.7 1.2-17 0.5,4.5 1.1,2.6 0.6,9.6 0.6-14.1 0.5-4.8 0.6,13 0.5-11 0.6,16.1 0.6-14 0.5,9.1 0.6-13.8 0.5,16.6 0.6-1.8 0.6-6.4 0.5-2.1 0.6,1.8 0.5-7.4 1.2,7.3 0.5-14.5 1.1,10.2 0.6-0.9 0.6,15.9 0.5-4.2 0.6-24.9 0.5,26.6 0.6-18.2 1.1,9.9 0.6-21.6 0.5,20.5 0.6-12.9 0.6,15.7 0.5-7.1 0.6-0.3 0.5,0.8 0.6-6.9 1.1,17.7 0.6-10.9 0.5,14.1 0.6-23 0.6,3 0.5,0.6 0.6,8.1 0.5-5.4 0.6,19.9 1.1-17.4 0.6,17.9 0.5-18.1 0.6,4.2 0.6-5.3 0.5,6.5 0.6-14.3 0.5,10.4 0.6-9.4 0.6,2.3 1.1,21.9 0.5-13.1 0.6-4.8 0.6-0.4 0.5,6 0.6-19.8 0.5,16.9 0.6-11.9 0.6,23.5 0.5-16.2 0.6,4.6 1.1-19.6 0.6,23.2 0.5-0.7 0.6-3.5 0.5,1.4 0.6-2.2 0.6-0.5 0.5,4.5 0.6-4.4 0.5,1.7 0.6-11.5 0.6,14.1 0.5-10.4 1.1,4.6 0.6-7 0.6,22.1 0.5-17 1.1,20 0.6-14.4 0.6-5.1 0.5,17 0.6-16.8 0.5,9.4 0.6-1.2 0.6-17.5 1.6,8 0.6,9.6 0.6-20.3 1.1,8.2 0.5-5.4 0.6,8.9 0.6,1.1 0.5-5.4 0.6-0.3 0.5-6.3 0.6,14.9 0.6-16.2 0.5,12.6 0.6-7.2 0.5,5.1 0.6,15.8 0.6-12.2 0.5,0.1 0.6,1.5 0.5-21.4 0.6,21.4 0.6-7.2 0.5-0.9 1.1,15.5 0.6-3.6 0.6-18.4 0.5,16.8 0.6-7.9 0.5,0.2 0.6,10.2 0.6-14.1 0.5,2.1 0.6,13.5 1.1-6.6 0.6-11.1 1.1,22.4 0.5-27.7 0.6,20.8 0.6-3.4 0.5,0.1 0.6,10.2 0.5-24.6 0.6,2.3 0.6-0.7 0.5,6.1 0.6-22.1 0.5,34.1 0.6-11.1 0.6,3 0.5,15 1.1-15.7 0.6-0.7 0.6,1.6 1.1-4.2 0.5,3.2 0.6-11.4 0.6,9.8 0.5-10.7 0.6-0.8 1.1,17 1.1-16.4 0.6,26.7 1.1-34.8 0.6,19.4 0.5,3.9 0.6,0.1 1.1-2 0.6,6.1 0.5-10.9 0.6,0.8 0.5,10.4 0.6-19.6 0.6,1.1 0.5,12.1 1.1-7.2 0.6,2.8 1.7-11.9 1.1,12.9 0.6,1.1 0.5,8.8 1.1-23.7 1.2,16.9 0.5-7.4 0.6,5.5 0.5-3.6 0.6,5.2 0.6-17 0.5,28.4 1.1-20.9 0.6,20.9 0.6-13 0.5,6.2 0.6-12.1 0.5,2.4 0.6,0.7 0.6-0.7 0.5,1.6 0.6-16.1 0.5,16.9 0.6,5.2 0.6-8.4 0.5,12 0.6-3.5 0.5-15.6 0.6,6.1 0.6,2.1 0.5-9.2 1.1,22.1 0.6-21.7 0.6,9.6 0.5-20.2 0.6,30 0.5-12.5 0.6,4.7 0.6-6 1.1,4.3 0.5-14.2 1.2,8.5 0.5-2.2 0.6,2.3 0.5,15.7 1.2-15.9 0.5,1.1 0.6-11.6 0.5,18.5 0.6-4.6 1.1-3 0.6-7.6 0.5,15.7 0.6-14.2 0.6,4.7 0.5,13.9 0.6-1.2 1.1-23.2 0.6,10.4 0.5-1.8 0.6,2.1 0.5,11.4 0.6-4.2" stroke="#9467bd" stroke-width="1.3"/><path d="M325.5,951.7l0.6,12.1 0.5-10.9 0.6,3.5 1.1-13.9 0.6,4.2 0.5-1.3 0.6,0.4 1.1,10.5 0.6-9.7 0.5,103.2 0.6-102.3 0.5,7.2 0.6,2 0.6-8 0.5-0.3 0.6,11.6 1.1-16.3 0.6,12.2 0.5-14.1 0.6,21.1 0.5-5.8 0.6-15.6 0.6,9.6 0.5,2.7 0.6-10.5 0.5-2.5 0.6,7.7 0.6-4.2 1.1,8.9 0.5-8.2 0.6,5.1 0.6,17.6 1.1-25.5 0.5,4.5 0.6,0.6 1.1,14.5 0.6-5.3 1.1,5.1 0.6-19.7 1.1,16.5 0.5-16.8 0.6-3.3 0.6,22.2 0.5-21.1 0.6,18.7 0.5-37.5 1.2,44.5 0.5-31.2 0.6,20.9 1.1-26.7 0.6,7.3 0.5,25 0.6-17.1 0.5,7.3 0.6-8.6 0.6,5.4 0.5-2 0.6-16.5 0.5,21.1 0.6-18.2 0.6,21.3 0.5-7.4 0.6,12.4 0.5-26.1 1.2,24.4 0.5-14.5 0.6,4.9 1.1,1.2 0.6-11.6 0.5,12.5 0.6-16.4 0.5,3.7 1.2-5 1.1,17.3 0.5-15.6 0.6,22.4 1.1-25.1 0.6,28.4 0.5-9 0.6,4.2 0.6-16.6 0.5,13.4 0.6-11.9 0.5,1.4 0.6-18.8 0.6-1.3 0.5,28.2 0.6-1.7 0.5-6 0.6,3 0.6-0.5 0.5-1.8 1.1-15.1 0.6,26.9 0.6-19.6 1.1,15.1 0.5-9.1 0.6,4.4 0.6-6.2 0.5-0.1 0.6,17.4 1.1-19 0.6,8.3 0.5,23.8 0.6-42.8 0.5,14.1 0.6-7.7 0.6,12.3 0.5,2.2 0.6-18.3 1.1,14 0.6-8.3 0.5,6.5 1.1-11.6 1.2,12.3 1.1-16.1 0.5,9.1 0.6,2 0.6-0.2 0.5,6.4 0.6-12.8 0.5,10.3 0.6-0.5 1.1-17.9 0.6,2.8 0.5,21.5 0.6-24.3 1.1,12.3 0.6-8.2 0.5,6.5 0.6-15.8 0.6,25.4 0.5-21.5 0.6,18.4 0.5-1.5 0.6-11.3 0.6,27.3 0.5-27.7 0.6-4.1 0.5,28.9 1.2-26.7 0.5,19.4 0.6,3.3 0.5-30.3 0.6,21.1 0.6-19.7 1.1,11.9 0.5,11.2 0.6-18.5 1.1,16 0.6,1.5 0.5-3.9 0.6,7.7 1.1-15.9 0.6,13.1 0.5-5.2 0.6-0.6 0.6-1.7 0.5,5.1 1.1-18.4 0.6,23.9 1.1-11.2 0.6-12.9 0.5,12.6 0.6,3.6 0.6-13.7 1.1,18.7 0.5-12.9 0.6,1.3 1.1,17 1.1-20.3 0.6,0.5 0.6,17.7 0.5-3.4 0.6-20.1 0.5,26.4 0.6-26.3 0.6,2 0.5-13.3 0.6,35.5 0.5-24.3 0.6,13.8 0.6-6.2 0.5,10.3 0.6-19.1 0.5,3.4 0.6,16.5 0.6,2.8 0.5-17.4 0.6,7.6 0.5-6.6 0.6,0 0.6-1.8 1.1,8.2 0.5-14.8 0.6,2.5 0.6,7.4 0.5-4.2 1.7,8.1 0.6-18.1 0.5,18.3 0.6-18.4 0.5,6.6 0.6,0.7 0.6-1.2 0.5,2.4 0.6,16.3 0.5,2.1 0.6-7.1 0.6-1.7 0.5-5.4 0.6,1.1 0.5-4.9 0.6,19.6 0.6-17.7 0.5,8.4 1.1-0.4 0.6-6.6 0.6,8.7 0.5-15.8 0.6-0.3 0.5,13.8 0.6-0.1 1.1-18.7 1.1,18.1 0.6-5.7 0.6,10.7 0.5-7.3 0.6,5.9 0.5-15.8 0.6,7.5 0.6-1.9 0.5,14.7 0.6-11 0.5-0.7 0.6-14.6 0.6,26.8 0.5-7.2 0.6,0 0.5-13.4 0.6,9.7 0.6-17.4 0.5-3.8 0.6,33.5 0.5-31.1 0.6,5.4 0.6-1.1 0.5,2.4 0.6,7.5 1.1,2.8 0.6,2.7 0.5-11.3 0.6,3.3 0.5-2.6 0.6,0.2 0.6,17.4 0.5-15.5 0.6,6.5 0.5,1.2 1.2-17 0.5,10.3 1.1-17.6 0.6,8.2 0.6,1 0.5,12.1 0.6-15.3 0.5,11.4 0.6-18.1 0.6-4.4 0.5,25.3 0.6-9.5 0.5,0.8 0.6-13.1 0.6,26.9 0.5-24 0.6,0.7 0.5,9.3 0.6-4.5 0.6,6.1 0.5-4.2 1.1,16.2 0.6-8 0.6-0.4 0.5-10.5 0.6,9.3 1.1-14.2 0.6,13.5 0.5-8.7 0.6,17.5 1.1-22.5 0.6,0.4 0.5-24.8 0.6,38.6 0.5-6.1 0.6,0.3 0.6,7 0.5-6.1 0.6,11.5 0.5-9.2 0.6-31.6 0.6,35.7 0.5-16.2 0.6-4 0.5-1.2 1.2,10.8 0.5-5.6 0.6-1.4 0.5,24 0.6-28.8 0.6,13 0.5-8.2 0.6-0.6 1.7,26.1 0.5-25.2 1.1,22.6 1.2-14 0.5-15.3 0.6,25.4 0.5-14.9 1.7,13.9 0.6-23.7 0.5,15.6 0.6-4.9 0.6,5.2 0.5-20.1 1.1,21.6 0.6-13.1 1.7,22.7 0.5-8.6 0.6-0.6 1.1,14.8 0.6-21.3 0.5,0.7 0.6-5.2 0.6,17.2 0.5-11.3 0.6-1.1 1.1,9.1 0.6-8.7 0.5,5.1 0.6,0.9 0.5-2.6 0.6,5.6 0.6,0.4 0.5-8.2 0.6-1.6 0.5-7 0.6,9.2 1.1,8.6 0.6-20 0.5,13.7 0.6,5.1 0.6-24.4 0.5,3.8 0.6,15.3 0.5-4.7 0.6,7.1 1.1-21.9 0.6,14.4 0.5-11.1 0.6-2.8 0.6,30.1 1.1-30.9 0.5,18.5 0.6,0 0.6,1.1 0.5-15.7 0.6,9.5 0.5-24.8 1.2,43.2 1.6-38.5 1.2,24.4 0.5-1.1 0.6,9.9 0.5-25.3 0.6,25.4 0.6-23.3 0.5-1.6 0.6,4.9 1.1-17.5 0.6,28.5 0.5-24.8 0.6,37.4 0.5-16.9 1.2-3.1 0.5-12.1 1.1,19.8 0.6,0.4 1.1-14.7 0.6,64.3 0.5-52.3 0.6-0.7 0.6-11.1 0.5,1.6 0.6,13.8 0.5,0.7 1.7-24.4 1.1,18.8 0.6-27.2 1.1,43.3 0.6-29.7 0.5-4.8 0.6,0.7 1.1,25.6 0.6-16.4 0.5-5.7 1.2,2.8 0.5,10.2 0.6-8 0.5,1.4 0.6,4.3 0.6-22.6 0.5,20.4 0.6-0.3 0.5-20.8 0.6,21.8 0.6,0.1 0.5-2.9 0.6,11.1 0.5-18.4 0.6,9.4 1.1-14.4 0.6,16.5 0.5-1.2 0.6,10.7 0.6-23 0.5,12 0.6-12.5 0.5,8.6 1.2,7.1 0.5-19.9 0.6,5.2 0.5-4 1.2,23.3 1.1-19.9 1.7-4.9 0.5,1.1 0.6-7.1 0.5,32.8 0.6-23.7 0.6,0.2 0.5-1.9 1.1,14.8 1.2-15 0.5,6.4 0.6-9.5 0.5,1.3 0.6,29.1 0.6-42.9 0.5,32.9 0.6-34.2 1.1,29.2 0.6-8.8 0.5,3.6 0.6-6.8 0.5,19.4 0.6-10.7 0.6,19.9 0.5-23 1.1,10.6 0.6-1 0.6-8.3 0.5,4 0.6-4.3 0.5,3.2 1.2,1.2 0.5-16.8 0.6,14 1.7-16.8 0.5,26.3 0.6-10.4 0.5,5.8 0.6-11.2 0.6,0 0.5,17.7 0.6-6.5 0.5-2.1 0.6-16.7 0.6,29.4 0.5-25.9 1.1,10.7 0.6-7.4 0.6,8.3 0.5-25.6 0.6,17.6 0.5,5.4 0.6-15.6 1.1,18.9 1.1-12.5 0.6,3.1 0.6-1.8 0.5-0.3 0.6-4.4 0.5,7.3 0.6-18.5 0.6,12.1 0.5-6.4 1.1,18 0.6-6.1 0.6-2.2 0.5,6.9 0.6,22.8 1.1-39.5 0.6-4.2 0.5,0.6 0.6,17.9 0.5,0 0.6-20.3 1.1,27.7 1.1-2.7 0.6-3.1 0.6,17.3 0.5-15.8 0.6-1.5 0.5-12.6 1.2,22.9 0.5-20.1 1.1-13.9 0.6,7.4 0.6,0.8 0.5-8.5 0.6,28.6 0.5-29.3 0.6-0.9 0.6,25 0.5-18.2 0.6,24.1 0.5-41.6 0.6,19.7 1.1,17.1 1.1-16.6 0.6,6.8 0.6-10.5 1.1,15.7 1.1-35.7 0.6,50.6 1.1-30.5 0.5,15.8 0.6,4.3 0.6-3.3 0.5-8.7 1.1,18.7 0.6-3.6 0.6-16 0.5,3.9 0.6-11.2 1.1,183.2 0.6-65.9 0.5,1.2 0.6-15.5 0.5,8.4 0.6,0.9 1.1-7.2 1.1,18.3 0.6-12.4 0.6,3.3 0.5-7.7 0.6,15.8 0.5-25.5 0.6,13.8 0.6-13 1.6,20.2 0.6-7.1 0.6,6.5 0.5-23.8 0.6,23 0.5-8 0.6,7.6 0.6-1.5 0.5-7.4 0.6-17.9 0.5,29.8 1.2-20.7 1.1,14.2 0.5-31 0.6,23.1 1.1,18.6 1.1-10.1 0.6-14.4 1.1,16.2 0.6-23.3 0.5,5.2 0.6,14.3 0.6-12.2 1.6,17.9 0.6-7.9 0.6-3 0.5-2 0.6,1.2 1.1-12.4 0.6,14 1.1-12 1.7,30.4 0.5-16.8 0.6,17.5 1.1-23.7 0.6-4 0.5,19.6 0.6,7.3 0.5-6.8 1.2-32 1.1,37.9 0.5-8.1 0.6-21.8 0.6,7 0.5-2.1 0.6,7.1 0.5-0.6 0.6,18.2 0.6-27.5 0.5-6.7 0.6,20.9 0.5,1.2 0.6-6.4 0.6,2.5 0.5,8.3 0.6-1.2 1.1-21.8 1.1,24.7 0.6-18.1 0.5-6.3 0.6,16.8 0.6,3.7 1.1-8 0.5-16.4 0.6,23.6 0.6-13.1 0.5-1 0.6,8.2 0.5-20.5 0.6,77.1 0.6-55.4 1.1-6.1 0.5-15 0.6,18.2 0.6-9.8 0.5,2.7 0.6,13.4 0.5-12.7 0.6,12.9 1.7-15.6 0.5,6.6 1.2,4 0.5-1.2 0.6-5.7 0.5,13.9 1.2-12.4 0.5,22.6 0.6-28.9 0.5-2 0.6,14.5 0.6-6 0.5,0.1 0.6,3.1 0.5-5.4 0.6,12.1 0.6-18 0.5,13.2 1.1-31.1 0.6,22.2 0.6-2.2 1.1,5.4 1.1-10.7 0.6,14.4 0.5-17.3 0.6,14.5 0.5-16.1 1.2,32.9 0.5-15.6 0.6,4.8 1.1-16.4 0.6,13.9 0.5-0.3 0.6-7.6 0.5,14.3 1.2-25.1 0.5-1.6 0.6,18.7 0.5-1.9 1.2-15 0.5,14.6 0.6,4.6 0.5-1.5 0.6-17.6 1.1,18.1 0.6-22.5 0.5,17.8 0.6,4.4 0.6-17.1 0.5-0.1 0.6,15.9 0.5-1.5 0.6-10.7 0.6,8.6 0.5-14.5 0.6,3.6 1.1,33.5 0.6-26.6 0.5,1 0.6-20.6 0.5,29.5 1.2-24.5 0.5,16.6 0.6-10.7 1.1,9.1 0.6-6.5 1.1,13.9 0.5-12.6 0.6,7.3 1.1-15.5 0.6,4.5 0.5,18.3 0.6-2.2 0.6,4.1 0.5-7.7 0.6,1.8 1.1-18.3 0.6,7.4 0.5,22.7 0.6-16.5 0.5-2.9 0.6-11.6 0.6,7.7 0.5-3.1 0.6,4.7 0.5,16.1 0.6-18.6 0.6-4.8 0.5,19.6 0.6-26.3 0.5-5.1 0.6,28.8 0.6-2.1 0.5,3.9 0.6-12.3 0.5,10.1 0.6-23.8 0.6,21 1.1-11.8 0.5,10.2 0.6-18.7 0.6,15.1 1.1-7.3 0.5,18.8 0.6-13.7 0.6,7.3 0.5-8 0.6,12.3 0.5-23 1.2,15.9 0.5-2.2 0.6,13.9 0.5-19.3 0.6,15.2 0.6-18.9 0.5,14.2 0.6-21.9 0.5,17.9 0.6,2.3 0.6-15.4 0.5,11.6 0.6-19.8 0.5-0.3 0.6,23.9 0.6-16.5 1.1,9.1 0.5,18.5 0.6-16.1 0.6,3.8 0.5-15.4 0.6-0.9 0.5,21.6 0.6,2.4 0.6-14.7 0.5,5.7 0.6-12.4 0.5,13.3 0.6-17.4 0.6-3.4 0.5,27.1 0.6-2.6 0.5-10.1 0.6,3.5 0.6-20.1 0.5,18.7 0.6,0.8 0.5,12.1 0.6-19.2 0.6,13.8 0.5-3.2 0.6,12.4 0.5-16.2 0.6-3.4 0.6-0.4 0.5,15.7 0.6-15.7 1.1-5.2 0.6,20.3 0.5-16 0.6-0.2 0.5,3 0.6-4 0.6,12.7 0.5-2 0.6-28.7 0.5,10.7 1.2,6.2 1.6,16 0.6-10.9 0.6,13.8 0.5-15.4 0.6,7.2 0.5-3.8 0.6,1.2 0.6-21.5 0.5-1.4 0.6,28.1 0.5-30.8 0.6,11.5 0.6,3 0.5-5 0.6,33.3 1.1-39.5 0.6,20.3 0.5-16.2 0.6,17.5 0.5,3.5 0.6-13.6" stroke="#8c564b" stroke-width="1.3"/><path d="M326.1,983.6l4.1,4.1l-4.1,4.1l-4.1,-4.1zM328.3,975.5l4.1,4.1l-4.1,4.1l-4.1,-4.1zM331.1,952.1l4.1,4.1l-4.1,4.1l-4.1,-4.1zM333.3,955.9l4.1,4.1l-4.1,4.1l-4.1,-4.1zM335.0,973.2l4.1,4.1l-4.1,4.1l-4.1,-4.1zM337.8,964.1l4.1,4.1l-4.1,4.1l-4.1,-4.1zM340.6,963.6l4.1,4.1l-4.1,4.1l-4.1,-4.1zM342.9,955.2l4.1,4.1l-4.1,4.1l-4.1,-4.1zM343.4,958.2l4.1,4.1l-4.1,4.1l-4.1,-4.1zM349.0,973.9l4.1,4.1l-4.1,4.1l-4.1,-4.1zM354.6,945.5l4.1,4.1l-4.1,4.1l-4.1,-4.1zM361.9,962.8l4.1,4.1l-4.1,4.1l-4.1,-4.1zM362.5,947.3l4.1,4.1l-4.1,4.1l-4.1,-4.1zM380.4,957.9l4.1,4.1l-4.1,4.1l-4.1,-4.1zM398.9,939.2l4.1,4.1l-4.1,4.1l-4.1,-4.1zM416.8,961.3l4.1,4.1l-4.1,4.1l-4.1,-4.1zM417.3,955.3l4.1,4.1l-4.1,4.1l-4.1,-4.1zM417.9,934.6l4.1,4.1l-4.1,4.1l-4.1,-4.1zM435.8,954.7l4.1,4.1l-4.1,4.1l-4.1,-4.1zM454.3,944.4l4.1,4.1l-4.1,4.1l-4.1,-4.1zM472.8,916.2l4.1,4.1l-4.1,4.1l-4.1,-4.1zM473.3,928.8l4.1,4.1l-4.1,4.1l-4.1,-4.1zM491.3,901.6l4.1,4.1l-4.1,4.1l-4.1,-4.1zM509.7,926.7l4.1,4.1l-4.1,4.1l-4.1,-4.1zM528.2,920.8l4.1,4.1l-4.1,4.1l-4.1,-4.1zM528.8,920.0l4.1,4.1l-4.1,4.1l-4.1,-4.1zM546.7,927.0l4.1,4.1l-4.1,4.1l-4.1,-4.1zM565.2,907.8l4.1,4.1l-4.1,4.1l-4.1,-4.1zM583.7,881.9l4.1,4.1l-4.1,4.1l-4.1,-4.1zM584.2,904.7l4.1,4.1l-4.1,4.1l-4.1,-4.1zM602.1,876.1l4.1,4.1l-4.1,4.1l-4.1,-4.1zM620.6,901.7l4.1,4.1l-4.1,4.1l-4.1,-4.1zM639.1,889.4l4.1,4.1l-4.1,4.1l-4.1,-4.1zM639.7,870.6l4.1,4.1l-4.1,4.1l-4.1,-4.1zM657.6,876.4l4.1,4.1l-4.1,4.1l-4.1,-4.1zM676.1,853.6l4.1,4.1l-4.1,4.1l-4.1,-4.1zM694.5,1017.9l4.1,4.1l-4.1,4.1l-4.1,-4.1zM695.1,991.8l4.1,4.1l-4.1,4.1l-4.1,-4.1zM699.0,973.4l4.1,4.1l-4.1,4.1l-4.1,-4.1zM713.0,985.8l4.1,4.1l-4.1,4.1l-4.1,-4.1zM731.5,996.4l4.1,4.1l-4.1,4.1l-4.1,-4.1zM750.0,972.8l4.1,4.1l-4.1,4.1l-4.1,-4.1zM753.9,988.0l4.1,4.1l-4.1,4.1l-4.1,-4.1zM768.5,974.3l4.1,4.1l-4.1,4.1l-4.1,-4.1zM786.9,986.3l4.1,4.1l-4.1,4.1l-4.1,-4.1zM805.4,1000.5l4.1,4.1l-4.1,4.1l-4.1,-4.1zM809.3,1002.7l4.1,4.1l-4.1,4.1l-4.1,-4.1zM823.9,965.1l4.1,4.1l-4.1,4.1l-4.1,-4.1zM842.4,955.3l4.1,4.1l-4.1,4.1l-4.1,-4.1zM860.9,965.6l4.1,4.1l-4.1,4.1l-4.1,-4.1zM864.8,971.6l4.1,4.1l-4.1,4.1l-4.1,-4.1zM866.5,958.3l4.1,4.1l-4.1,4.1l-4.1,-4.1z" fill="#e377c2"/><path d="M326.1,999.4l4.1,4.1l-4.1,4.1l-4.1,-4.1zM328.3,1014.2l4.1,4.1l-4.1,4.1l-4.1,-4.1zM331.1,1000.5l4.1,4.1l-4.1,4.1l-4.1,-4.1zM333.3,1011.6l4.1,4.1l-4.1,4.1l-4.1,-4.1zM335.0,1031.6l4.1,4.1l-4.1,4.1l-4.1,-4.1zM337.8,1014.9l4.1,4.1l-4.1,4.1l-4.1,-4.1zM340.6,1011.8l4.1,4.1l-4.1,4.1l-4.1,-4.1zM342.9,983.4l4.1,4.1l-4.1,4.1l-4.1,-4.1zM343.4,1010.0l4.1,4.1l-4.1,4.1l-4.1,-4.1zM349.0,996.8l4.1,4.1l-4.1,4.1l-4.1,-4.1zM354.6,993.3l4.1,4.1l-4.1,4.1l-4.1,-4.1zM361.9,960.2l4.1,4.1l-4.1,4.1l-4.1,-4.1zM362.5,1000.7l4.1,4.1l-4.1,4.1l-4.1,-4.1zM380.4,981.4l4.1,4.1l-4.1,4.1l-4.1,-4.1zM398.9,975.8l4.1,4.1l-4.1,4.1l-4.1,-4.1zM416.8,958.4l4.1,4.1l-4.1,4.1l-4.1,-4.1zM417.3,976.5l4.1,4.1l-4.1,4.1l-4.1,-4.1zM417.9,972.0l4.1,4.1l-4.1,4.1l-4.1,-4.1zM435.8,965.7l4.1,4.1l-4.1,4.1l-4.1,-4.1zM454.3,958.1l4.1,4.1l-4.1,4.1l-4.1,-4.1zM472.8,945.5l4.1,4.1l-4.1,4.1l-4.1,-4.1zM473.3,939.1l4.1,4.1l-4.1,4.1l-4.1,-4.1zM491.3,942.9l4.1,4.1l-4.1,4.1l-4.1,-4.1zM509.7,934.7l4.1,4.1l-4.1,4.1l-4.1,-4.1zM528.2,926.5l4.1,4.1l-4.1,4.1l-4.1,-4.1zM528.8,952.3l4.1,4.1l-4.1,4.1l-4.1,-4.1zM546.7,930.8l4.1,4.1l-4.1,4.1l-4.1,-4.1zM565.2,915.7l4.1,4.1l-4.1,4.1l-4.1,-4.1zM583.7,924.8l4.1,4.1l-4.1,4.1l-4.1,-4.1zM584.2,950.5l4.1,4.1l-4.1,4.1l-4.1,-4.1zM602.1,921.9l4.1,4.1l-4.1,4.1l-4.1,-4.1zM620.6,918.5l4.1,4.1l-4.1,4.1l-4.1,-4.1zM639.1,910.2l4.1,4.1l-4.1,4.1l-4.1,-4.1zM639.7,914.0l4.1,4.1l-4.1,4.1l-4.1,-4.1zM657.6,898.6l4.1,4.1l-4.1,4.1l-4.1,-4.1zM676.1,864.0l4.1,4.1l-4.1,4.1l-4.1,-4.1zM694.5,1050.4l4.1,4.1l-4.1,4.1l-4.1,-4.1zM695.1,1047.4l4.1,4.1l-4.1,4.1l-4.1,-4.1zM699.0,1066.0l4.1,4.1l-4.1,4.1l-4.1,-4.1zM713.0,1042.9l4.1,4.1l-4.1,4.1l-4.1,-4.1zM731.5,1055.2l4.1,4.1l-4.1,4.1l-4.1,-4.1zM750.0,1064.3l4.1,4.1l-4.1,4.1l-4.1,-4.1zM753.9,1042.0l4.1,4.1l-4.1,4.1l-4.1,-4.1zM768.5,1038.5l4.1,4.1l-4.1,4.1l-4.1,-4.1zM786.9,1043.0l4.1,4.1l-4.1,4.1l-4.1,-4.1zM805.4,1032.2l4.1,4.1l-4.1,4.1l-4.1,-4.1zM809.3,1035.9l4.1,4.1l-4.1,4.1l-4.1,-4.1zM823.9,1040.5l4.1,4.1l-4.1,4.1l-4.1,-4.1zM842.4,1020.5l4.1,4.1l-4.1,4.1l-4.1,-4.1zM860.9,1034.7l4.1,4.1l-4.1,4.1l-4.1,-4.1zM864.8,1021.4l4.1,4.1l-4.1,4.1l-4.1,-4.1zM866.5,1036.3l4.1,4.1l-4.1,4.1l-4.1,-4.1z" fill="#7f7f7f"/><path d="M326.1,1018.5l4.1,4.1l-4.1,4.1l-4.1,-4.1zM328.3,977.8l4.1,4.1l-4.1,4.1l-4.1,-4.1zM331.1,1002.6l4.1,4.1l-4.1,4.1l-4.1,-4.1zM333.3,992.2l4.1,4.1l-4.1,4.1l-4.1,-4.1zM335.0,1016.9l4.1,4.1l-4.1,4.1l-4.1,-4.1zM337.8,1022.4l4.1,4.1l-4.1,4.1l-4.1,-4.1zM340.6,978.0l4.1,4.1l-4.1,4.1l-4.1,-4.1zM342.9,978.4l4.1,4.1l-4.1,4.1l-4.1,-4.1zM343.4,994.3l4.1,4.1l-4.1,4.1l-4.1,-4.1zM349.0,1007.5l4.1,4.1l-4.1,4.1l-4.1,-4.1zM354.6,976.2l4.1,4.1l-4.1,4.1l-4.1,-4.1zM361.9,957.7l4.1,4.1l-4.1,4.1l-4.1,-4.1zM362.5,982.8l4.1,4.1l-4.1,4.1l-4.1,-4.1zM380.4,954.6l4.1,4.1l-4.1,4.1l-4.1,-4.1zM398.9,936.3l4.1,4.1l-4.1,4.1l-4.1,-4.1zM416.8,936.6l4.1,4.1l-4.1,4.1l-4.1,-4.1zM417.3,931.5l4.1,4.1l-4.1,4.1l-4.1,-4.1zM417.9,927.5l4.1,4.1l-4.1,4.1l-4.1,-4.1zM435.8,950.6l4.1,4.1l-4.1,4.1l-4.1,-4.1zM454.3,909.6l4.1,4.1l-4.1,4.1l-4.1,-4.1zM472.8,905.4l4.1,4.1l-4.1,4.1l-4.1,-4.1zM473.3,922.1l4.1,4.1l-4.1,4.1l-4.1,-4.1zM491.3,927.9l4.1,4.1l-4.1,4.1l-4.1,-4.1zM509.7,916.6l4.1,4.1l-4.1,4.1l-4.1,-4.1zM528.2,884.6l4.1,4.1l-4.1,4.1l-4.1,-4.1zM528.8,885.7l4.1,4.1l-4.1,4.1l-4.1,-4.1zM546.7,918.7l4.1,4.1l-4.1,4.1l-4.1,-4.1zM565.2,900.2l4.1,4.1l-4.1,4.1l-4.1,-4.1zM583.7,890.4l4.1,4.1l-4.1,4.1l-4.1,-4.1zM584.2,873.0l4.1,4.1l-4.1,4.1l-4.1,-4.1zM602.1,907.8l4.1,4.1l-4.1,4.1l-4.1,-4.1zM620.6,873.3l4.1,4.1l-4.1,4.1l-4.1,-4.1zM639.1,850.5l4.1,4.1l-4.1,4.1l-4.1,-4.1zM639.7,834.8l4.1,4.1l-4.1,4.1l-4.1,-4.1zM657.6,853.9l4.1,4.1l-4.1,4.1l-4.1,-4.1zM676.1,855.1l4.1,4.1l-4.1,4.1l-4.1,-4.1zM694.5,1041.6l4.1,4.1l-4.1,4.1l-4.1,-4.1zM695.1,1065.3l4.1,4.1l-4.1,4.1l-4.1,-4.1zM699.0,1052.0l4.1,4.1l-4.1,4.1l-4.1,-4.1zM713.0,1059.0l4.1,4.1l-4.1,4.1l-4.1,-4.1zM731.5,1050.6l4.1,4.1l-4.1,4.1l-4.1,-4.1zM750.0,1049.5l4.1,4.1l-4.1,4.1l-4.1,-4.1zM753.9,1036.6l4.1,4.1l-4.1,4.1l-4.1,-4.1zM768.5,1061.1l4.1,4.1l-4.1,4.1l-4.1,-4.1zM786.9,1035.3l4.1,4.1l-4.1,4.1l-4.1,-4.1zM805.4,1030.4l4.1,4.1l-4.1,4.1l-4.1,-4.1zM809.3,1020.3l4.1,4.1l-4.1,4.1l-4.1,-4.1zM823.9,1043.6l4.1,4.1l-4.1,4.1l-4.1,-4.1zM842.4,1004.4l4.1,4.1l-4.1,4.1l-4.1,-4.1zM860.9,1026.7l4.1,4.1l-4.1,4.1l-4.1,-4.1zM864.8,998.8l4.1,4.1l-4.1,4.1l-4.1,-4.1zM866.5,1011.6l4.1,4.1l-4.1,4.1l-4.1,-4.1z" fill="#bcbd22"/><path d="M326.1,965.8l4.1,4.1l-4.1,4.1l-4.1,-4.1zM328.3,970.8l4.1,4.1l-4.1,4.1l-4.1,-4.1zM331.1,967.1l4.1,4.1l-4.1,4.1l-4.1,-4.1zM333.3,993.4l4.1,4.1l-4.1,4.1l-4.1,-4.1zM335.0,964.5l4.1,4.1l-4.1,4.1l-4.1,-4.1zM337.8,939.1l4.1,4.1l-4.1,4.1l-4.1,-4.1zM340.6,955.6l4.1,4.1l-4.1,4.1l-4.1,-4.1zM342.9,953.8l4.1,4.1l-4.1,4.1l-4.1,-4.1zM343.4,967.5l4.1,4.1l-4.1,4.1l-4.1,-4.1zM349.0,951.8l4.1,4.1l-4.1,4.1l-4.1,-4.1zM354.6,929.9l4.1,4.1l-4.1,4.1l-4.1,-4.1zM361.9,941.8l4.1,4.1l-4.1,4.1l-4.1,-4.1zM362.5,956.3l4.1,4.1l-4.1,4.1l-4.1,-4.1zM380.4,978.5l4.1,4.1l-4.1,4.1l-4.1,-4.1zM398.9,959.2l4.1,4.1l-4.1,4.1l-4.1,-4.1zM416.8,943.6l4.1,4.1l-4.1,4.1l-4.1,-4.1zM417.3,933.7l4.1,4.1l-4.1,4.1l-4.1,-4.1zM417.9,936.0l4.1,4.1l-4.1,4.1l-4.1,-4.1zM435.8,940.5l4.1,4.1l-4.1,4.1l-4.1,-4.1zM454.3,944.6l4.1,4.1l-4.1,4.1l-4.1,-4.1zM472.8,934.8l4.1,4.1l-4.1,4.1l-4.1,-4.1zM473.3,943.7l4.1,4.1l-4.1,4.1l-4.1,-4.1zM491.3,941.2l4.1,4.1l-4.1,4.1l-4.1,-4.1zM509.7,925.8l4.1,4.1l-4.1,4.1l-4.1,-4.1zM528.2,908.5l4.1,4.1l-4.1,4.1l-4.1,-4.1zM528.8,929.5l4.1,4.1l-4.1,4.1l-4.1,-4.1zM546.7,934.5l4.1,4.1l-4.1,4.1l-4.1,-4.1zM565.2,916.4l4.1,4.1l-4.1,4.1l-4.1,-4.1zM583.7,922.6l4.1,4.1l-4.1,4.1l-4.1,-4.1zM584.2,921.7l4.1,4.1l-4.1,4.1l-4.1,-4.1zM602.1,926.0l4.1,4.1l-4.1,4.1l-4.1,-4.1zM620.6,920.5l4.1,4.1l-4.1,4.1l-4.1,-4.1zM639.1,934.6l4.1,4.1l-4.1,4.1l-4.1,-4.1zM639.7,910.3l4.1,4.1l-4.1,4.1l-4.1,-4.1zM657.6,932.6l4.1,4.1l-4.1,4.1l-4.1,-4.1zM676.1,906.9l4.1,4.1l-4.1,4.1l-4.1,-4.1zM694.5,977.3l4.1,4.1l-4.1,4.1l-4.1,-4.1zM695.1,975.5l4.1,4.1l-4.1,4.1l-4.1,-4.1zM699.0,978.8l4.1,4.1l-4.1,4.1l-4.1,-4.1zM713.0,971.9l4.1,4.1l-4.1,4.1l-4.1,-4.1zM731.5,985.0l4.1,4.1l-4.1,4.1l-4.1,-4.1zM750.0,967.3l4.1,4.1l-4.1,4.1l-4.1,-4.1zM753.9,998.9l4.1,4.1l-4.1,4.1l-4.1,-4.1zM768.5,972.3l4.1,4.1l-4.1,4.1l-4.1,-4.1zM786.9,968.4l4.1,4.1l-4.1,4.1l-4.1,-4.1zM805.4,960.8l4.1,4.1l-4.1,4.1l-4.1,-4.1zM809.3,980.9l4.1,4.1l-4.1,4.1l-4.1,-4.1zM823.9,973.2l4.1,4.1l-4.1,4.1l-4.1,-4.1zM842.4,963.6l4.1,4.1l-4.1,4.1l-4.1,-4.1zM860.9,978.6l4.1,4.1l-4.1,4.1l-4.1,-4.1zM864.8,967.2l4.1,4.1l-4.1,4.1l-4.1,-4.1zM866.5,964.0l4.1,4.1l-4.1,4.1l-4.1,-4.1z" fill="#17becf"/><path d="M326.1,826.4l4.1,4.1l-4.1,4.1l-4.1,-4.1zM328.3,952.7l4.1,4.1l-4.1,4.1l-4.1,-4.1zM331.1,955.3l4.1,4.1l-4.1,4.1l-4.1,-4.1zM333.3,942.8l4.1,4.1l-4.1,4.1l-4.1,-4.1zM335.0,949.1l4.1,4.1l-4.1,4.1l-4.1,-4.1zM337.8,966.8l4.1,4.1l-4.1,4.1l-4.1,-4.1zM340.6,958.8l4.1,4.1l-4.1,4.1l-4.1,-4.1zM342.9,960.2l4.1,4.1l-4.1,4.1l-4.1,-4.1zM343.4,947.6l4.1,4.1l-4.1,4.1l-4.1,-4.1zM349.0,961.3l4.1,4.1l-4.1,4.1l-4.1,-4.1zM354.6,967.6l4.1,4.1l-4.1,4.1l-4.1,-4.1zM361.9,957.5l4.1,4.1l-4.1,4.1l-4.1,-4.1zM362.5,939.7l4.1,4.1l-4.1,4.1l-4.1,-4.1zM380.4,947.9l4.1,4.1l-4.1,4.1l-4.1,-4.1zM398.9,954.4l4.1,4.1l-4.1,4.1l-4.1,-4.1zM416.8,938.4l4.1,4.1l-4.1,4.1l-4.1,-4.1zM417.3,950.9l4.1,4.1l-4.1,4.1l-4.1,-4.1zM417.9,932.8l4.1,4.1l-4.1,4.1l-4.1,-4.1zM435.8,930.1l4.1,4.1l-4.1,4.1l-4.1,-4.1zM454.3,950.1l4.1,4.1l-4.1,4.1l-4.1,-4.1zM472.8,925.7l4.1,4.1l-4.1,4.1l-4.1,-4.1zM473.3,931.7l4.1,4.1l-4.1,4.1l-4.1,-4.1zM491.3,937.9l4.1,4.1l-4.1,4.1l-4.1,-4.1zM509.7,934.5l4.1,4.1l-4.1,4.1l-4.1,-4.1zM528.2,938.2l4.1,4.1l-4.1,4.1l-4.1,-4.1zM528.8,909.2l4.1,4.1l-4.1,4.1l-4.1,-4.1zM546.7,915.6l4.1,4.1l-4.1,4.1l-4.1,-4.1zM565.2,903.2l4.1,4.1l-4.1,4.1l-4.1,-4.1zM583.7,912.6l4.1,4.1l-4.1,4.1l-4.1,-4.1zM584.2,908.9l4.1,4.1l-4.1,4.1l-4.1,-4.1zM602.1,911.1l4.1,4.1l-4.1,4.1l-4.1,-4.1zM620.6,925.2l4.1,4.1l-4.1,4.1l-4.1,-4.1zM639.1,905.2l4.1,4.1l-4.1,4.1l-4.1,-4.1zM639.7,900.1l4.1,4.1l-4.1,4.1l-4.1,-4.1zM657.6,909.1l4.1,4.1l-4.1,4.1l-4.1,-4.1zM676.1,903.1l4.1,4.1l-4.1,4.1l-4.1,-4.1zM694.5,996.8l4.1,4.1l-4.1,4.1l-4.1,-4.1zM695.1,988.9l4.1,4.1l-4.1,4.1l-4.1,-4.1zM699.0,982.3l4.1,4.1l-4.1,4.1l-4.1,-4.1zM713.0,989.2l4.1,4.1l-4.1,4.1l-4.1,-4.1zM731.5,998.3l4.1,4.1l-4.1,4.1l-4.1,-4.1zM750.0,977.7l4.1,4.1l-4.1,4.1l-4.1,-4.1zM753.9,997.3l4.1,4.1l-4.1,4.1l-4.1,-4.1zM768.5,993.9l4.1,4.1l-4.1,4.1l-4.1,-4.1zM786.9,965.5l4.1,4.1l-4.1,4.1l-4.1,-4.1zM805.4,983.5l4.1,4.1l-4.1,4.1l-4.1,-4.1zM809.3,961.2l4.1,4.1l-4.1,4.1l-4.1,-4.1zM823.9,964.2l4.1,4.1l-4.1,4.1l-4.1,-4.1zM842.4,982.9l4.1,4.1l-4.1,4.1l-4.1,-4.1zM860.9,971.3l4.1,4.1l-4.1,4.1l-4.1,-4.1zM864.8,956.7l4.1,4.1l-4.1,4.1l-4.1,-4.1zM866.5,981.8l4.1,4.1l-4.1,4.1l-4.1,-4.1z" fill="#1f77b4"/><path d="M326.1,928.8l4.1,4.1l-4.1,4.1l-4.1,-4.1zM328.3,941.9l4.1,4.1l-4.1,4.1l-4.1,-4.1zM331.1,953.3l4.1,4.1l-4.1,4.1l-4.1,-4.1zM333.3,949.5l4.1,4.1l-4.1,4.1l-4.1,-4.1zM335.0,939.5l4.1,4.1l-4.1,4.1l-4.1,-4.1zM337.8,937.7l4.1,4.1l-4.1,4.1l-4.1,-4.1zM340.6,948.6l4.1,4.1l-4.1,4.1l-4.1,-4.1zM342.9,940.7l4.1,4.1l-4.1,4.1l-4.1,-4.1zM343.4,946.9l4.1,4.1l-4.1,4.1l-4.1,-4.1zM349.0,962.3l4.1,4.1l-4.1,4.1l-4.1,-4.1zM354.6,937.3l4.1,4.1l-4.1,4.1l-4.1,-4.1zM361.9,941.4l4.1,4.1l-4.1,4.1l-4.1,-4.1zM362.5,945.9l4.1,4.1l-4.1,4.1l-4.1,-4.1zM380.4,930.8l4.1,4.1l-4.1,4.1l-4.1,-4.1zM398.9,928.6l4.1,4.1l-4.1,4.1l-4.1,-4.1zM416.8,916.0l4.1,4.1l-4.1,4.1l-4.1,-4.1zM417.3,950.5l4.1,4.1l-4.1,4.1l-4.1,-4.1zM417.9,937.7l4.1,4.1l-4.1,4.1l-4.1,-4.1zM435.8,929.3l4.1,4.1l-4.1,4.1l-4.1,-4.1zM454.3,918.8l4.1,4.1l-4.1,4.1l-4.1,-4.1zM472.8,909.1l4.1,4.1l-4.1,4.1l-4.1,-4.1zM473.3,915.2l4.1,4.1l-4.1,4.1l-4.1,-4.1zM491.3,925.5l4.1,4.1l-4.1,4.1l-4.1,-4.1zM509.7,911.5l4.1,4.1l-4.1,4.1l-4.1,-4.1zM528.2,900.8l4.1,4.1l-4.1,4.1l-4.1,-4.1zM528.8,909.6l4.1,4.1l-4.1,4.1l-4.1,-4.1zM546.7,914.9l4.1,4.1l-4.1,4.1l-4.1,-4.1zM565.2,901.5l4.1,4.1l-4.1,4.1l-4.1,-4.1zM583.7,899.7l4.1,4.1l-4.1,4.1l-4.1,-4.1zM584.2,901.3l4.1,4.1l-4.1,4.1l-4.1,-4.1zM602.1,884.7l4.1,4.1l-4.1,4.1l-4.1,-4.1zM620.6,892.6l4.1,4.1l-4.1,4.1l-4.1,-4.1zM639.1,880.6l4.1,4.1l-4.1,4.1l-4.1,-4.1zM639.7,878.9l4.1,4.1l-4.1,4.1l-4.1,-4.1zM657.6,914.9l4.1,4.1l-4.1,4.1l-4.1,-4.1zM676.1,883.4l4.1,4.1l-4.1,4.1l-4.1,-4.1zM694.5,981.3l4.1,4.1l-4.1,4.1l-4.1,-4.1zM695.1,979.0l4.1,4.1l-4.1,4.1l-4.1,-4.1zM699.0,969.4l4.1,4.1l-4.1,4.1l-4.1,-4.1zM713.0,979.8l4.1,4.1l-4.1,4.1l-4.1,-4.1zM731.5,962.3l4.1,4.1l-4.1,4.1l-4.1,-4.1zM750.0,969.0l4.1,4.1l-4.1,4.1l-4.1,-4.1zM753.9,975.1l4.1,4.1l-4.1,4.1l-4.1,-4.1zM768.5,964.0l4.1,4.1l-4.1,4.1l-4.1,-4.1zM786.9,978.3l4.1,4.1l-4.1,4.1l-4.1,-4.1zM805.4,969.7l4.1,4.1l-4.1,4.1l-4.1,-4.1zM809.3,964.7l4.1,4.1l-4.1,4.1l-4.1,-4.1zM823.9,961.0l4.1,4.1l-4.1,4.1l-4.1,-4.1zM842.4,943.2l4.1,4.1l-4.1,4.1l-4.1,-4.1zM860.9,961.2l4.1,4.1l-4.1,4.1l-4.1,-4.1zM864.8,958.6l4.1,4.1l-4.1,4.1l-4.1,-4.1zM866.5,945.6l4.1,4.1l-4.1,4.1l-4.1,-4.1z" fill="#ff7f0e"/><path d="M290.5,795V1186" stroke="#444" stroke-width="1" shape-rendering="crispEdges"/><text x="287.40000000000003" y="813.6999999999999" text-anchor="end" font-size="15.5" fill="#444" letter-spacing="1.1">2</text><text x="287.40000000000003" y="862.0" text-anchor="end" font-size="15.5" fill="#444" letter-spacing="1.1">1.5</text><text x="287.40000000000003" y="910.3" text-anchor="end" font-size="15.5" fill="#444" letter-spacing="1.1">1</text><text x="287.40000000000003" y="958.6" text-anchor="end" font-size="15.5" fill="#444" letter-spacing="1.1">0.5</text><text x="287.40000000000003" y="1006.9" text-anchor="end" font-size="15.5" fill="#444" letter-spacing="1.1">0</text><text x="287.40000000000003" y="1055.1999999999998" text-anchor="end" font-size="15.5" fill="#444" letter-spacing="1.1">−0.5</text><text x="287.40000000000003" y="1103.4999999999998" text-anchor="end" font-size="15.5" fill="#444" letter-spacing="1.1">−1</text><text x="287.40000000000003" y="1151.8" text-anchor="end" font-size="15.5" fill="#444" letter-spacing="1.1">−1.5</text><text x="326.05" y="1201.3" text-anchor="middle" font-size="15.5" fill="#444" letter-spacing="1.1">0</text><text x="438.05" y="1201.3" text-anchor="middle" font-size="15.5" fill="#444" letter-spacing="1.1">200</text><text x="550.05" y="1201.3" text-anchor="middle" font-size="15.5" fill="#444" letter-spacing="1.1">400</text><text x="662.05" y="1201.3" text-anchor="middle" font-size="15.5" fill="#444" letter-spacing="1.1">600</text><text x="774.05" y="1201.3" text-anchor="middle" font-size="15.5" fill="#444" letter-spacing="1.1">800</text><text x="886.05" y="1201.3" text-anchor="middle" font-size="15.5" fill="#444" letter-spacing="1.1">1000</text><text x="600.5" y="1222.4" text-anchor="middle" font-size="17.6" fill="#444" letter-spacing="1.25">Injection Sequence</text><text transform="translate(236.6,990) rotate(-90)" text-anchor="middle" font-size="17.6" fill="#444" letter-spacing="1.25">Relative Error(ppm)</text></svg>
<svg class="abs" style="left:989px;top:742px;z-index:2" width="1556" height="520" viewBox="989 742 1556 520" fill="none" stroke-linejoin="round" stroke-linecap="butt"><path d="M1075,1110.5H2487" stroke="#eee" stroke-width="1" shape-rendering="crispEdges"/><path d="M1075,1058.5H2487" stroke="#eee" stroke-width="1" shape-rendering="crispEdges"/><path d="M1075,1006.5H2487" stroke="#eee" stroke-width="1" shape-rendering="crispEdges"/><path d="M1075,954.5H2487" stroke="#eee" stroke-width="1" shape-rendering="crispEdges"/><path d="M1075,902.5H2487" stroke="#eee" stroke-width="1" shape-rendering="crispEdges"/><path d="M1075,850.5H2487" stroke="#eee" stroke-width="1" shape-rendering="crispEdges"/><path d="M1075,798.5H2487" stroke="#eee" stroke-width="1" shape-rendering="crispEdges"/><path d="M1407.5,795V1186" stroke="#eee" stroke-width="1" shape-rendering="crispEdges"/><path d="M1664.5,795V1186" stroke="#eee" stroke-width="1" shape-rendering="crispEdges"/><path d="M1922.5,795V1186" stroke="#eee" stroke-width="1" shape-rendering="crispEdges"/><path d="M2179.5,795V1186" stroke="#eee" stroke-width="1" shape-rendering="crispEdges"/><path d="M2437.5,795V1186" stroke="#eee" stroke-width="1" shape-rendering="crispEdges"/><path d="M1075,1162.5H2487" stroke="#444" stroke-width="1" shape-rendering="crispEdges"/><path d="M1149.5,795V1186" stroke="#444" stroke-width="1" shape-rendering="crispEdges"/><path d="M1149.5,1104l1.3-9.2 1.3,3.2 1.3,5 1.3-5.6 1.2-0.3 1.3-5.5 1.3,10.4 1.3-6.6 1.3,3.6 1.3-2.7 1.3,3.3 1.3-0.8 1.2-2.1 1.3,6.5 1.3,3.5 1.3-8.1 1.3,1.7 2.6-4.3 1.3,3.3 1.2-5.4 1.3,4.7 1.3-0.6 1.3-2.8 1.3,0.9 1.3,2.6 1.3-0.8 1.3,3.4 1.2-0.6 2.6-5.6 1.3,4.8 2.6-9.2 1.3-0.8 1.3,8.2 1.2-4 1.3,1.7 2.6-0.9 1.3,1.2 1.3-1.2 2.6,4.1 1.3-2 1.2-0.9 1.3-2.9 1.3,3.3 1.3-1.4 1.3-2.7 1.3,9.1 2.6-5.7 1.2,2 1.3,4 1.3-7.8 2.6,7.7 1.3-11.2 1.3,12.3 1.3-4.9 1.2,2.5 1.3-3 1.3-1.8 1.3,5.3 1.3-2.7 1.3,0 1.3,3.4 1.3-8.4 1.2,3.8 2.6,3.3 2.6-3.2 1.3,2.3 1.3-6.6 2.5,27.9 1.3-22.1 1.3,6.2 1.3-7 1.3,22.6 1.3-25.1 1.3,0.6 1.3-3.5 1.3,1.5 1.2-1.3 1.3,2.8 1.3-2.1 1.3,2.2 1.3,4.2 1.3,2.6 1.3-0.2 1.3-6.6 1.2,11.2 1.3-10 1.3,3.6 1.3-5.8 1.3,2.1 1.3,3.7 1.3-3.2 1.3,8.8 1.2-10.1 1.3-1 1.3,9 1.3-10.9 1.3,3.8 1.3-1.4 1.3,6.2 1.3-8.2 1.2-0.1 1.3,2.2 1.3,3.8 1.3-7.3 1.3-2.1 1.3,3.3 1.3-2.7 1.3,6.3 1.2-3.2 1.3-1 1.3,0.7 1.3-11.2 1.3,9.8 1.3,3.8 1.3-5.9 1.3,7.8 1.3-6.2 1.2-1.9 1.3,5.1 1.3-0.9 1.3,2.5 1.3-4.7 1.3,3.2 1.3-10.4 3.8,12.9 1.3-14.9 2.6,6.3 1.3,0.9 1.3-0.3 1.3,2.4 1.2-10.6 2.6,13.9 1.3-3.8 1.3,8.2 1.3-14.8 1.3-0.9 1.3-4.9 1.2,82.3 1.3-65.1 1.3-2.1 2.6,1.7 1.3,5 1.3-5 1.3,1.2 1.2-3.3 1.3,27.1 1.3,2.6 1.3-22.5 1.3-0.5 1.3,1.5 1.3-1.7 1.3-3.2 1.3,0.2 1.2-3.2 1.3,0.8 1.3,1.8 1.3,6.8 1.3-6.5 1.3-2.3 1.3,9.4 2.5-1.3 1.3,0.4 1.3-2.9 1.3,2.5 1.3-5 1.3,6.1 1.3-4.1 2.5,3.2 1.3-7.6 1.3,3.9 1.3-2 1.3,3.4 1.3-4 1.3,0.4 1.3,2.9 1.2,6.2 1.3-9.9 1.3,0.5 1.3,2 3.9-0.1 1.3,4.6 1.2-3.6 1.3-1.4 1.3,3.5 1.3,1.4 1.3-10.7 2.6,8.2 1.3,0.7 1.3,8.2 3.8-14.9 1.3,12.7 1.3-5.1 1.3-9.9 1.3,4.7 1.3,1 1.2-3 1.3,5 1.3,0.2 1.3-3.3 1.3-0.5 1.3,7.2 1.3-9.8 1.3,12.4 1.2-4 1.3-14.2 1.3,13.6 1.3-4.4 1.3,6.2 1.3-2.5 1.3,1.5 1.3-1.2 2.5-8.1 1.3,21.4 1.3-20.7 1.3,7.8 1.3-7.4 1.3,3.4 1.3-3 1.2,6.7 1.3,20.5 1.3-27.2 3.9,7.8 2.6-4.4 1.2-0.9 1.3,4.9 1.3-0.8 1.3-2.9 1.3,5.8 1.3-7.7 1.3,3.6 1.3,0.5 1.3,8.6 1.2-3 2.6-3.8 1.3,2 1.3-5.6 2.6,2.5 1.3,6.6 1.2-12.9 1.3,6.4 1.3-3.3 1.3,4.8 2.6-5.2 1.3,1.8 1.3-2.7 1.2,4.3 1.3-8.2 1.3,14.6 2.6-10.7 1.3,4.6 1.3,0.7 1.3,5 1.2-11.1 1.3,11.6 1.3-9 1.3,1.2 2.6-4.7 1.3,8.1 1.3,0.4 1.2-1.8 1.3,5.2 1.3-9.5 1.3,4.6 1.3-2.1 1.3,4.9 1.3-4.3 1.3,2.4 1.3-2 1.2,3.8 1.3-7.9 2.6,13.4 1.3-11.9 1.3,3.5 1.3,2.2 1.3-12.7 1.2,9.6 1.3,4.8 2.6-6.4 1.3,2.3 1.3-5.5 1.3,0.7 1.3,6.9 2.5-5.3 1.3,4 1.3,0.2 1.3-5.1 1.3,1.7 1.3,6.9 1.3-3.2 1.2-0.5 1.3-1.1 1.3,2.3 1.3-7.7 1.3,8.6 1.3,0.5 1.3-4.9 1.3,9.2 2.5-10.7 1.3,7.3 1.3-1.8 1.3-7.2 2.6,3.9 1.3-0.7 1.3,3.4 1.2-3.7 1.3,1.9 1.3-10 1.3,7.3 1.3,3.3 1.3-1.1 1.3-0.4 1.3,5.4 1.2-2.1 1.3-8.7 1.3,10.9 1.3-3.1 1.3-5.9 1.3-1.9 1.3,9.5 1.3-9.3 1.2,6.8 1.3-7.5 2.6,7.2 1.3-3.7 1.3,0.6 1.3,5 1.3-10.9 1.2,9.3 1.3-5.5 2.6,11 1.3-2.6 3.9-10.7 1.2,6.3 1.3,1.3 1.3,3.6 1.3-4.4 1.3-1.3 1.3,9.3 1.3-13 1.3,0.6 1.3-4.2 1.2,11.8 1.3-3.5 1.3,0.1 1.3,5 1.3-1.7 1.3,0.5 1.3-5.6 1.3,0.3 1.2-3.3 1.3,6.5 1.3,3.6 1.3-6.7 1.3,0.2 1.3-1.1 1.3-2.1 1.3,6.8 1.2-5.1 1.3,6.7 1.3-4.3 1.3-2 1.3,3 1.3-1.2 1.3,5.9 2.5-5.6 1.3,5 1.3-1.3 1.3-12.1 1.3,8 1.3,4 1.3,0.8 1.3-8.9 1.2,15.5 1.3-9 1.3-3.5 1.3,4.4 1.3-3.9 1.3,5.8 1.3-3.8 2.6-0.1 1.2-0.4 1.3,0.4 1.3-4 1.3,5.1 1.3,1.2 1.3-1.1 1.3,0.1 1.3,4.5 1.2,1.4 1.3-2 1.3-6 1.3,3.5 1.3-0.9 1.3-12.1 2.6,11.4 1.2,1.5 1.3-7.3 1.3,7.9 1.3-7.4 1.3,2.4 1.3-2.9 1.3,7.7 1.3-6 1.2,10 2.6-10.6 1.3,63.4 1.3-51.5 1.3-8.4 2.6,3.3 1.2,26.2 1.3-25.5 1.3,1.1 1.3-5.4 1.3,1.7 1.3-2.2 1.3,1.4 1.3,6.9 2.5-12.1 1.3,11.4 1.3-4.9 1.3,3.8 1.3,0.3 1.3-3.9 1.3-2.5 2.5,1.6 1.3-1.7 1.3,9.1 1.3-8.7 2.6,3.5 1.3-0.6 1.3,3 1.2-7.2 1.3,6.8 1.3,2.5 1.3-5.2 1.3,18.9 1.3-18.7 1.3-5.6 1.3,5.8 1.2-0.9 1.3,14.2 2.6-15.1 1.3-2.9 1.3-1.2 1.3-2.7 1.3,10.3 1.2-4.5 1.3,16 1.3-12.2 1.3,0.9 1.3,14.1 1.3-17.9 1.3-1.5 1.3,6.5 1.3-6.6 1.2,4.7 1.3,1.6 1.3,5.8 1.3-13.3 1.3,1.3 1.3,3.7 1.3,0.2 1.3,3.3 1.2-6.5 1.3,2 1.3-2.1 1.3,1.2 1.3,5.7 1.3,0.5 1.3,16.7 1.3-16.2 1.2-7.1 1.3-2.3 1.3,7.8 1.3-7 1.3,2.2 1.3-1.8 1.3,4.2 2.5-3.9 1.3-5 1.3,3.9 1.3,0.8 1.3,28.1 1.3-27.6 1.3,3.7 1.3,14.4 1.2,3.5 1.3-24 2.6,2.8 1.3,0.9 1.3-5.1 1.3,8 2.6-8.2 1.2,5.7 1.3-3.7 1.3-0.3 1.3-3.9 1.3,3 1.3,10.1 1.3-6 1.3-1.1 1.2-1.9 1.3,1.6 1.3-5.5 1.3,2.9 1.3,8.2 1.3-2 1.3,5.2 1.3-13.7 1.2,6.7 1.3,0.1 1.3,5.2 2.6-7.2 1.3,3 1.3,0 1.3,0.8 1.2,13.3 1.3-13.5 1.3,3.3 1.3-3.4 2.6-1.6 1.3,0.6 1.3,3.2 1.2,14.7 1.3-20.2 1.3,28.6 1.3-34.4 1.3,1 1.3,12.8 2.6-10.3 2.5-2.9 1.3,13.3 2.6-4.9 1.3-3.9 1.3,5.9 1.3-5.6 1.3-0.1 1.2-1 1.3,7.4 1.3-5.5 1.3,0.4 1.3,1.8 1.3-6.4 1.3,5.9 1.3-6.5 1.2,7.6 1.3-8.6 1.3,0.2 1.3,9.1 1.3-4.3 1.3,0.1 1.3,4.7 1.3-6.5 1.2,0.6 1.3,5.4 2.6-6.5 1.3,3.8 1.3,2.1 1.3-8.8 1.3,9.7 1.2,3.4 1.3-11.3 1.3,1.2 1.3,9.8 1.3-5.7 1.3-0.7 1.3,0.2 1.3-3.1 1.3,0.3 1.2,1.5 1.3-0.5 1.3-2.9 1.3-0.9 1.3,11.7 1.3-15.2 1.3,10.2 1.3-5 1.2,8.9 1.3-4.1 1.3,2.7 1.3-8.7 1.3,0.7 1.3,2.9 1.3,0.4 1.3-2.5 1.2,4.7 1.3-1.5 1.3,0.3 1.3-6.5 1.3,27.6 1.3-20.1 1.3-6.6 1.3,64.3 1.2-69.1 1.3,7.6 1.3-3.8 1.3-6.7 1.3,9.5 1.3,0.1 1.3-3.6 1.3,4 1.2-2 1.3,1.9 1.3,1.1 1.3-6.7 1.3,5 1.3,2.5 1.3-2.9 1.3-0.7 1.3-1.8 2.5-6 1.3,12 1.3-4 1.3,6.3 1.3-8.2 1.3,22.4 1.3-19 1.2,1 1.3,0.3 1.3,2 1.3-8.6 1.3-5.2 1.3,12.3 1.3-11.3 2.5,12.2 1.3-8 1.3-0.8 1.3,1.4 1.3,2.6 1.3-7.8 1.3,7.9 1.3-3.8 1.2-0.1 1.3,6.2 1.3,3.9 1.3-0.5 1.3-5.5 1.3-3.1 1.3,8.7 1.3-4.4 1.2-9.3 1.3,13.6 1.3-9.3 1.3,0.4 1.3-1.8 1.3,9.2 1.3-7.5 1.3,7.1 1.3-11.3 1.2,9.1 1.3-5.2 1.3,4.8 1.3-3.9 1.3,6.9 1.3-7.6 1.3-1.4 1.3,2.5 1.2-11.4 1.3,1.1 1.3-2.1 1.3,1.2 1.3-6.6 1.3,11.7 1.3-2 1.3-0.4 1.2-4.1 1.3,1.5 1.3-2.9 1.3,2.4 1.3,3.7 2.6-4.9 1.3,12.9 1.2-17.8 1.3,9.2 1.3-1.2 1.3-3.1 1.3,2.3 1.3,5.7 2.6-14.2 1.2,1.4 1.3-1.1 1.3,8.7 1.3-1.9 1.3-6.4 1.3-2.4 1.3,7.1 2.6,9.4 1.2-16.9 1.3,17.6 1.3,69.7 1.3-74.8 1.3-6.8 1.3,16.1 1.3,1.2 1.3-2.3 1.2-0.3 1.3-3.4 1.3,2.6 2.6,11.4 1.3-9.9 1.3,4 1.3-8.6 1.2,11.1 1.3-6.2 1.3,3.8 1.3,0.5 1.3-10.5 1.3,6.2 1.3,1.4 1.3-3.8 1.2,6.2 1.3-1.7 1.3,1.1 1.3-10.9 1.3,6.8 2.6-3.3 1.3,5.4 1.2-0.2 1.3,6.1 1.3-8.8 1.3,0.9 1.3,2.8 1.3-6.8 1.3,12.4 1.3-9.2 1.2,7.5 1.3-1 1.3-3.9 1.3-6.5 1.3,10.5 1.3-0.8 1.3,0.9 1.3-13.6 1.3,6.2 1.2,0.5 1.3-7 2.6,17.5 1.3-6.8 1.3,2.9 1.3-13.6 1.3,14.5 1.2-7.3 1.3,3.4 1.3-0.3 1.3-2 1.3,0.6 2.6,4.6 1.3-2.4 1.2,1.6 1.3-0.6 1.3-4.4 1.3,1.1 1.3-2.7 1.3,3.1 1.3-9.3 1.3,11.3 1.2,1.1 1.3-8.6 1.3,7.3 2.6-7.2 1.3,24.7 1.3-19.1 1.3-5.7 3.8,9.2 1.3-3.5 1.3,5.4 1.3-3.3 1.3,24.7 1.3-29.8 1.3-2 1.2,6 1.3-0.9 1.3,2.8 1.3,1.2 2.6-8.4 1.3,0.4 1.3-0.6 1.2,3.7 1.3,10.5 1.3-15.7 1.3-1.8 1.3,1.7 1.3,0 1.3-0.9 1.3-6.9 1.2,10.1 1.3-5.4 1.3,3.2 1.3,0.5 1.3,3.5 1.3,0.8 1.3,3.4 1.3-7.5 2.5,7.6 1.3-1.9 1.3,1.8 1.3-12.2 1.3,8 1.3-1.6 1.3,5.7 1.2-0.8 1.3-9.1 1.3,5.5 1.3-2 1.3-7.2 1.3-1.1 1.3,6.1 2.6,1.8 1.2,2.3 1.3-10.2 1.3,14.2 1.3-5 1.3,8 1.3-2.9 1.3-7.4 1.3-0.3 1.2,0.4 1.3,19.4 1.3-14.8 2.6-1.6 1.3-6.6 1.3-1.6 2.5,8.7 1.3,1.8 1.3,11.5 1.3-14.8 1.3,7.1 1.3-14.3 1.3,6.1 1.3,1.3 1.2,2.4 1.3,0 1.3-8 1.3,8.2 1.3-4.7 1.3-2.4 1.3-5.5 1.3,5.5 1.2,2.8 1.3,1.8 1.3-5.9 1.3-0.7 1.3,6.4 1.3-4.6 1.3,3.2 1.3,6.6 1.3-2.8 1.2-8.3 1.3,5.1 1.3-4.6 1.3,4 1.3,2.3 1.3-5.8 1.3,0.9 1.3,8.8 1.2-10.3 1.3,6.1 1.3-6.3 1.3,0.5 1.3,7.1 1.3-9.6 1.3,1.6 1.3,8 1.2-0.2 1.3,5.4 1.3-12.4 1.3,9.4 1.3,1.9 1.3-13.3 1.3-6.2 2.5,11.2 1.3-2.4 1.3,13.7 2.6-17.3 1.3,15.3 1.3-0.9 1.3-15.3 1.2,2.9 1.3-1.9 1.3,5.3 1.3-1.1 1.3,5 1.3-6.5 1.3-2.7 1.3,8.4 1.3-6.1 1.2,29.2 1.3-32.4 1.3,0.2 1.3,15.5 1.3-13.1 1.3-2.7 1.3,7.3 1.3-1.7 1.2-0.3 1.3,28.6 1.3-28.9 1.3-7.9 1.3,5 1.3-4.9 1.3,2.4 1.3-1 1.2,5 1.3-3.1 1.3-5.9" stroke="#1f77b4" stroke-width="1.3"/><path d="M1149.5,1152.7l1.3-0.1 2.6-0.9 1.3,0.2 1.2,1.1 2.6-1.2 1.3,0.8 1.3-1.1 1.3,0 1.3,1 2.5-0.8 2.6,0.6 2.6-0.2 1.3-0.9 3.8,0.7 2.6-0.3 2.6,0.8 1.3-0.6 5.1,1 1.3-0.8 1.3,0.5 2.6-0.3 1.3,0.5 1.3-0.9 1.2-0.2 1.3,1 6.5-0.8 1.3,0.5 1.3-0.7 1.2,1.4 2.6-1.5 1.3,0.7 3.9-1.1 1.3,1.5 3.8-0.2 1.3-0.5 1.3,1.1 1.3-1.2 1.3,0.2 1.3-0.8 1.2,1.6 1.3-1.1 2.6,0.7 1.3-0.9 1.3,0 1.3,1.2 1.3-1.1 1.2,0.5 5.2,0.2 1.3-0.4 1.3,1.3 1.3-1.7 2.5,0.8 1.3-0.5 1.3,0.3 2.6-0.7 1.3,0.3 1.3,1.8 1.3-2.2 1.2,0.6 1.3-0.3 1.3,0.8 3.9-0.7 3.8,0.1 2.6-0.4 2.6,0.7 1.3-0.6 1.3,0.8 2.5-1.1 1.3,1.5 1.3-0.2 1.3,0.6 1.3-2.1 1.3,0.9 2.6-0.1 2.5,0.6 1.3-0.6 1.3,0.6 3.9-1.6 1.3,1.6 1.2-0.2 2.6,0.6 5.2-1.5 1.3,1.1 1.3-0.8 1.2,0.4 2.6-0.6 3.9,0.4 3.8-0.2 1.3,0.3 2.6-0.1 1.3-0.6 1.3,1.2 3.8-0.5 1.3,1.1 1.3-1.7 1.3-0.2 1.3,1.6 1.3-0.1 1.3-1.4 1.3,1.7 1.2-0.6 2.6,0.8 1.3-0.1 2.6,0.9 6.4-1.4 2.6,0.7 1.3-0.2 1.3,0.7 2.6-0.2 1.2,0.4 1.3-1 1.3,0.8 2.6,0 1.3-1.2 2.6,0.6 1.2-0.2 1.3,1.2 2.6-1 2.6,0.8 3.8-1.3 1.3,1.1 1.3-1.1 1.3,1.2 1.3-0.6 2.6,0.2 1.3-0.9 2.5,0.7 1.3-0.4 1.3,0.8 2.6-1 1.3,0.5 1.3-0.7 1.2,1.3 1.3,0.1 1.3-0.4 2.6,0.1 1.3-0.9 2.6,1.1 2.5-0.6 1.3,0.7 1.3-0.7 1.3,0.6 2.6-0.5 1.3,0.7 5.1-0.9 2.6,0.9 1.3-0.4 1.3,0.2 2.5-0.8 2.6-0.1 2.6,1.3 2.6-0.8 2.5,0.6 2.6-1.1 1.3,0.7 2.6-1.1 1.3,1.2 1.3-0.6 1.2,1 3.9-1.2 2.6,0.7 2.6-0.9 1.2,0.1 1.3,1 1.3-0.7 1.3,0.6 2.6-0.8 1.3,1 1.3-1.4 1.3,1.8 1.2-0.9 1.3,0.8 2.6-1.5 2.6-0.1 1.3,1 2.5,0.3 1.3-1.8 2.6,1.8 3.9-0.9 2.5,1.3 2.6-1.1 3.9,0.8 1.3-1.1 2.5,1 1.3-0.2 1.3-1 1.3,0.9 1.3-0.7 1.3,0.7 2.6,0.1 1.2-0.5 1.3,0.1 1.3,0.6 1.3-1.2 1.3,1 1.3,0 1.3-0.7 1.3,0.8 3.8-0.7 1.3,1.1 1.3-0.3 1.3,0.7 1.3-1.3 3.8,0.1 1.3,0.4 1.3-0.5 1.3,0.7 2.6-0.3 1.3-0.6 1.3,1 1.2-1.9 1.3,1.7 1.3,0.4 1.3-0.8 1.3,0.4 1.3-0.6 1.3-0.1 1.3,0.8 1.2-0.7 1.3,0.5 1.3-0.3 1.3,0.3 3.9-0.9 1.3,0.9 2.5-0.9 1.3,1 1.3-0.8 1.3,0.6 2.6-0.3 1.3,0.3 1.3-0.8 3.8,0.7 3.9-0.2 1.3,0.8 1.3-0.9 1.2,0.1 3.9,1 1.3-0.9 1.3,0.4 1.3-0.1 1.3-1.3 1.2,1.8 1.3,0.2 1.3-1.2 1.3,1.1 2.6-0.8 1.3,0.5 1.3-1 1.2,0.6 3.9,0.4 1.3-0.3 1.3-1 1.3,0.9 2.5-0.2 1.3,0.6 1.3-0.7 2.6,1.1 1.3,0 2.6-1.7 1.3,0.6 1.2-0.2 2.6,1.8 1.3-2.1 1.3,0.4 1.3,1.1 1.3-0.8 3.8,0.6 2.6-0.8 1.3,0.9 1.3-0.8 1.3,0.9 1.3-1 1.2,0.4 1.3-0.5 1.3,0.2 1.3,0.9 5.2-1.2 1.2,1.1 1.3-0.5 1.3-1.1 1.3,1 2.6,0.8 1.3-1 1.3-0.2 1.2,0.8 1.3-0.7 2.6-0.3 3.9,1 1.3-0.8 1.3,1 1.2-1.2 3.9,1.5 1.3-0.5 2.6,0.1 2.5-1.4 1.3,1.4 1.3-0.1 1.3-1.3 1.3,0.9 1.3-0.1 1.3,0.5 1.3-1 1.2,0.6 3.9-0.6 2.6,0.9 1.3-0.5 1.3,0.3 1.2,0.8 1.3-0.5 1.3,0.4 1.3-0.4 2.6,0.6 1.3,0.8 1.3-0.9 2.5-0.2 1.3,0.9 3.9-0.6 1.3,0.4 1.3-0.5 1.3,0.7 1.2-0.6 5.2,0.2 2.6-0.5 3.8,0.6 3.9-0.1 2.6,0.4 1.3-0.1 1.2-0.7 1.3,0.6 3.9-0.4 1.3,0.2 1.3-0.5 2.5,0.9 1.3-0.5 1.3,0.5 2.6-0.8 1.3,0.9 1.3-0.8 1.3,0.3 1.2-0.4 1.3,0.3 1.3-0.3 1.3,0.3 1.3-0.4 2.6,0.7 2.6-0.3 1.2-0.6 1.3,0.9 1.3,0.3 1.3-1 2.6,1.1 3.8-0.5 1.3-1 1.3,0.9 2.6-0.2 2.6,0.8 1.3-1.4 1.2,0.9 1.3,0.2 1.3-0.6 1.3,0.6 1.3-0.1 1.3-0.6 1.3,0.5 2.5,0 1.3-0.7 1.3,1.2 1.3,0.4 1.3-1.1 1.3,0.2 1.3-1.2 1.3,1 5.1-0.2 1.3,0.6 2.6-0.9 1.3,1 3.8-0.7 1.3,0.2 2.6-0.3 2.6,0.6 1.3-0.4 2.5,0.3 1.3-0.6 3.9,1.1 2.6-0.8 2.5,0.1 1.3-0.7 2.6,1.1 2.6-0.7 2.5,0.2 3.9-0.5 1.3,0.8 3.9-0.2 1.2-0.7 3.9,1.1 2.6-0.6 2.6,0.6 1.3-0.7 1.2,0.3 1.3-0.4 2.6,0 1.3,0.7 1.3-0.1 2.6-1.4 1.2,0.9 2.6,0.4 1.3-1 1.3,0.7 1.3,0.1 1.3-0.1 1.3,0.3 1.2-0.4 3.9,0.8 2.6-0.4 1.3,0.7 2.5-0.8 1.3,0 1.3-0.9 1.3,1.6 1.3-0.7 2.6-0.1 2.5,0.4 1.3-0.4 1.3,0.2 1.3-0.9 1.3,0.9 2.6-0.5 6.4,0.7 2.6-0.9 1.3,0 1.3,0.9 1.3-0.6 3.8,0.4 1.3-0.5 1.3,0.7 1.3,0 1.3-0.8 1.3,1.2 2.5-0.9 2.6,0.3 1.3-1 2.6,0.4 1.3-0.4 2.5,0.5 1.3-0.7 1.3,0 1.3,1 1.3-1.1 1.3-0.2 2.5,1.3 1.3-0.8 1.3,0.6 1.3-0.8 3.9,0.9 2.6-0.5 1.2,0.7 2.6-0.2 1.3-0.8 2.6,0.6 1.3-0.6 3.8,0.6 1.3-0.7 2.6,1.2 2.6-0.6 1.3,0.9 1.2-1.4 1.3-0.1 1.3,0.9 1.3-0.8 3.9,0.8 1.3-1.2 2.5,1.1 1.3-0.6 2.6,0.6 1.3-0.6 1.3,0.1 1.3,1 1.2-0.8 2.6-0.4 3.9,0.2 1.3,0.6 1.3-0.4 1.3,0.3 2.5-0.8 2.6,1.4 1.3-1.1 1.3-0.3 2.6,1 1.2-0.8 1.3,0.6 3.9-0.7 1.3,0.9 1.3-1.1 1.3,0.4 1.2-0.8 1.3,1.4 1.3,0.4 1.3-0.8 1.3,0.5 1.3-0.6 1.3,0.9 1.3-1.2 1.2,0.3 1.3-0.3 2.6,0.9 1.3-1 2.6-0.2 1.3,0.8 2.5-0.4 1.3,0.4 3.9-0.6 1.3,1.2 1.3-1.4 1.3,0.6 2.5,0.2 1.3-0.7 2.6,0.4 1.3-0.3 1.3,0.6 1.3-0.6 1.2,0.7 1.3-0.2 1.3-0.9 1.3,1 1.3,0.1 3.9-0.6 3.8,0.2 1.3-1.1 1.3,1.8 1.3-0.8 1.3-0.2 1.3,0.7 1.2-0.6 1.3,0 1.3,1.3 1.3-1.9 3.9,1.1 1.3-0.2 2.5,0.2 1.3-0.8 1.3,1.4 1.3,0.1 2.6-1.3 1.3,0.7 1.2-0.7 1.3,0.6 5.2-0.6 3.9,0.9 1.2-1.1 1.3,0.3 1.3-0.3 1.3,0.8 1.3-0.6 2.6-0.3 1.3,0.6 1.2-0.6 1.3,1.1 1.3-0.4 2.6,0.4 2.6-1 1.3,0.8 3.8-0.1 2.6-0.7 1.3,1.1 1.3-0.9 1.3,0.1 2.5,0.9 1.3-0.7 1.3,0.5 1.3-0.7 2.6-0.5 1.3,0.9 3.8-0.5 3.9,0.7 2.6-0.5 1.3-0.7 2.5,0.8 1.3-0.5 1.3,0 1.3,0.6 1.3-0.3 6.4,0.4 1.3-0.4 2.6,0.9 2.6-1.2 3.8,0.3 2.6,0.8 1.3-0.1 1.3-0.6 3.8,0.3 1.3-1.2 1.3,1.3 1.3-1 1.3,0.8 2.6-1 2.5,0.2 2.6,1.3 1.3,0 2.6-1.1 1.3,1 1.3-1.1 2.5,1 2.6-1.5 1.3,1.2 1.3-0.4 2.6,0.3 1.2-0.6 1.3-0.2 1.3,0.4 1.3-0.4 1.3,0.6 1.3-0.3 1.3,0.8 1.3-0.9 2.5,1.2 1.3-0.7 1.3,0.6 1.3-0.1 1.3-0.9 1.3,0.1 2.5,1.3 1.3-1.3 1.3,0.8 1.3-0.8 2.6,0.1 1.3-0.7 2.5,1 3.9-0.3 1.3,0.8 2.6-0.6 1.3,0.7 1.3-0.1 1.2-0.7 1.3,0.7 1.3-1.2 5.2,1.1 3.8-1 1.3,1.7 1.3-1.4 1.3-0.2 1.3,0.7 1.3-0.5 3.8,0.8 1.3-1 3.9,0.5 2.6-0.8 1.2,0 2.6,1 1.3-0.6 1.3,1 1.3-1.5 2.6,1 2.5,0.1 1.3-0.6 1.3,0.6 1.3-0.4 2.6,0.8 1.3-0.8 3.8,0.6 1.3-0.3 6.5,0.1 1.2-0.8 2.6,0.1 1.3,0.7 2.6-0.5 3.8,0.4 2.6-0.7" stroke="#ff7f0e" stroke-width="1.3"/><path d="M1149.5,1120.6l1.3-2 1.3,2.4 2.6,10 1.2-8.7 1.3-4 1.3,6.7 1.3-4.1 1.3-8.5 1.3,10.9 1.3-24.3 1.3,18.1 1.2,7.8 1.3-7.5 1.3,3.4 1.3-7.2 1.3,12.5 1.3-8.9 1.3,8.6 2.5-11.6 1.3,6.6 1.3-5.3 1.3,7.8 1.3-5.3 1.3,7.4 2.6-2.5 1.2,6.9 1.3-2.2 1.3-1.2 1.3-9.7 2.6,12.8 1.3,0.5 1.3-4.5 1.2,4.6 1.3-5.2 1.3,5.5 1.3,0.1 1.3-7.6 1.3,11 1.3-16.7 1.3,12.4 1.3,3 1.2-8.3 1.3-1.9 1.3-0.8 1.3,3.2 1.3,5 1.3-2.1 1.3-1.1 1.3-2.8 1.2-0.3 1.3,1.1 1.3-0.5 1.3,12.2 2.6-13.1 1.3,6.4 1.3-1.4 1.2,2.6 1.3-2.2 1.3,2.1 1.3,5.4 1.3-9.2 1.3-0.1 2.6,9.7 1.2-6.4 1.3,3.5 1.3-8.4 2.6,10.1 1.3-3.3 1.3-9.4 1.3,7.7 1.2,2.5 1.3-2 1.3,3.5 1.3-7.5 1.3,8.5 1.3-7.3 1.3-1.6 1.3,0.5 1.3,3.9 1.2,1.1 1.3-1.6 2.6-1.7 1.3,2.1 1.3-0.8 1.3,2.6 1.3,1.3 1.2-6.8 1.3,2.6 1.3-1 1.3-3.3 1.3,8.5 1.3-0.3 1.3-0.9 1.3-4.5 1.2,8.1 1.3-2.7 1.3-5.4 1.3,8.4 1.3-8.2 1.3-3.3 2.6,8.6 1.2-1.5 1.3,1.9 2.6-7.2 1.3-0.3 1.3,11.8 2.6-9.6 1.2,2.4 1.3,7.7 1.3-9.9 1.3-1.3 1.3,1.9 1.3,0.2 1.3-3.8 1.3,8.7 1.3-4.3 1.2-2.7 1.3-11.4 1.3,15.5 1.3-5.8 1.3-3.6 1.3,3.5 1.3-0.5 1.3-1.5 1.2,11.5 1.3-8.9 1.3,3.6 1.3-7.7 1.3,4.2 2.6,0.8 1.3,5.5 1.2-8.6 1.3,9.9 1.3-5.7 1.3,0.6 1.3-5.4 2.6,7.1 2.5-10.1 1.3,11 1.3-9.5 1.3,8.2 1.3-1.7 1.3,0 1.3,3.3 1.3-10.3 1.2,3.3 1.3,0.8 1.3,7.7 1.3-7.8 1.3,6.1 1.3-8.7 1.3,12.2 1.3-9.6 1.3,8.9 1.2-0.3 1.3-6.4 1.3-2.4 1.3-0.9 1.3,5.8 1.3,0.7 1.3-5.6 1.3,8 1.2-0.1 1.3-6.2 1.3,0.4 1.3,1.4 1.3-4.2 1.3,10.8 2.6-14.2 1.2,9.8 1.3,3.2 1.3-9.2 1.3,2.6 1.3-2.4 1.3,2 1.3,4.3 1.3-0.8 1.2,3.6 1.3-13.9 1.3,13.1 1.3-2.1 1.3,1.3 2.6-7.5 1.3,7 1.2-3.4 1.3-1 1.3-5.1 1.3,8.7 1.3-1.7 1.3-4.8 1.3,11 1.3-5 1.3-0.3 1.2,4.4 1.3-3.2 1.3-1.4 1.3-3.1 1.3,0.8 1.3,5.2 1.3,1.4 1.3-6.5 1.2,8.6 1.3-3.3 2.6,3.7 1.3-6.2 1.3,5.8 1.3-2.7 1.3-6.3 1.2-1 1.3,10 1.3-1.4 1.3-0.1 1.3,1.6 1.3-8.8 2.6,2.9 1.2,5 1.3-5.7 1.3,1.9 1.3,0.8 2.6-4.4 1.3,4.7 1.3,1.2 1.2,2.1 1.3-7.9 1.3,3.1 1.3,9.5 1.3-8.2 1.3-2.1 1.3,7.8 1.3-0.3 1.2-8.1 2.6,8.1 1.3-4.8 1.3-1 1.3,4.2 1.3-0.5 1.3-2.6 1.3,0.3 1.2-5.8 1.3,1.4 2.6,6.4 1.3-0.2 1.3,5.2 1.3-6.9 2.5,2 1.3-4.5 1.3-1.6 1.3,9.9 1.3-7.2 1.3-0.1 1.3,3.4 1.3,0.3 1.2-7.7 1.3,3.1 1.3-4.3 1.3,9.1 1.3,0.9 2.6-6 2.5-3.4 1.3,8.2 1.3,2.5 1.3-7.6 1.3,0.3 1.3,1 1.3-2.7 1.3,7.1 1.2,2.5 1.3-11.5 1.3,5.5 1.3,1.9 2.6-7.9 1.3,6.4 1.3-4.8 1.3,5.1 1.2-5.7 1.3,5.4 1.3-3.1 1.3,3.8 1.3-1.9 1.3,1.2 1.3,2 2.5-3.5 1.3,2.6 1.3,1.3 2.6-6.1 1.3,4.8 1.3,2.8 1.3-0.3 1.2-2.8 1.3-5.1 1.3,8.4 1.3-6.8 1.3,4.2 1.3,1.5 1.3-0.4 1.3-5.2 1.2,5 1.3-5.6 1.3-2.1 1.3,9 2.6,2.8 1.3-7.1 1.3,4.4 1.2-0.8 1.3,0.6 1.3-6.7 1.3,2.2 1.3,0.2 1.3,7.2 2.6-5.1 1.3,0.2 1.2-1.3 1.3-4 1.3,2.9 1.3-0.4 1.3,2.9 1.3,0.9 1.3,0.2 1.3-1.1 1.2,4.7 1.3-3.2 1.3-1.9 1.3,1.6 1.3-1.3 1.3,5.5 1.3-3.9 1.3-1.7 1.2-3.5 1.3,3.2 2.6,2.1 1.3-1.8 1.3,1.6 1.3-3.7 1.3,3.9 1.2-3.7 1.3,4 1.3,2.6 1.3-0.1 1.3-7.1 1.3,4.5 1.3-0.3 1.3-9.1 1.2,11.2 1.3-3.4 1.3,4 1.3-2.2 1.3-3.4 1.3,2.5 1.3-6.6 1.3,8.5 1.3-0.7 1.2,2.1 1.3-4.2 1.3,2.4 1.3-1.9 1.3,2 1.3-3.8 1.3,3.3 1.3-2.2 1.2,0.7 1.3,1.9 1.3-2.3 1.3,0.1 1.3-1.6 1.3,7.4 1.3-10.3 1.3,4.1 1.2-0.9 1.3-0.3 1.3,5.7 1.3-6.3 1.3,1.3 1.3,2.4 1.3-3.9 2.5,5.4 1.3-5.6 1.3,0.3 2.6,2.7 1.3-5 1.3,6.4 1.3-2.4 1.2,1.2 1.3,0.1 1.3-2 1.3,4.3 1.3-4.4 1.3,0.7 3.9,4.9 2.5-9 1.3,6.8 1.3,0.9 1.3-0.7 1.3-2.7 1.3-0.7 1.3,0.4 1.2,1.2 1.3,3.4 1.3-6.5 1.3,4 1.3-2.1 1.3,0.9 1.3,0.2 1.3-2.3 1.2,1.9 1.3-5.5 2.6,3.4 1.3,3.3 1.3-3.1 1.3,1.4 1.3-1.1 1.2,1.9 1.3,3.1 1.3-0.1 2.6-5.3 1.3,2.7 1.3,1.5 1.3-1.2 1.2-2.4 1.3,3.3 1.3,0.1 2.6-3.3 1.3,5.3 1.3-2.3 1.3-1.1 1.3,1.2 1.2-2.7 1.3-0.9 1.3,4.5 1.3-8.9 1.3,5.7 1.3-3.4 1.3,2.4 1.3,7.3 1.2-1.6 1.3-4.3 2.6-1 1.3,7.4 2.6-7 1.3-2.2 1.2,2.1 1.3,5.4 1.3-2.3 1.3-0.6 1.3,0.3 1.3-4.2 2.6-0.7 1.2,6.8 2.6,1.2 1.3-3.6 1.3-0.9 1.3,4.1 1.3-4.6 1.3,0.1 1.2,1.2 1.3-1.8 1.3,4.1 1.3,0.2 1.3-7.1 1.3,5.2 1.3-3.8 2.6,9.1 1.2-7.9 1.3,5 1.3-1 1.3-4.9 1.3,6.8 2.6-7.5 1.3-2.5 1.2,8.5 1.3-3.3 1.3,2.4 1.3-5.3 1.3,4.8 1.3-5.1 1.3,7.2 1.3-5.7 1.2-1.9 5.2,7.9 1.3-6.4 1.3,0.1 1.3,1.6 1.2,4.6 1.3-1.1 1.3-2.1 1.3-5.1 1.3-0.5 1.3,2.5 1.3,6.8 1.3,1.8 1.2-5.9 1.3-1.1 1.3-3.4 1.3,7.2 1.3-5.6 1.3,4.1 1.3-2.5 1.3,3.2 2.5,0.1 1.3-1.1 1.3,2.2 1.3-0.4 1.3-3.1 1.3,4.3 1.3-2.5 1.3,0.7 1.2-1 1.3-4.1 1.3,5.4 1.3-6.6 1.3,9.8 1.3-2.7 1.3-4.5 1.3,8.8 1.2-6.1 1.3-2 1.3,5.3 1.3-8.2 1.3-1 1.3,4.9 1.3,0.2 1.3-2.2 1.2-0.5 1.3,4 1.3-0.2 1.3-6.8 1.3,5 1.3,1.2 1.3,1.9 1.3,5.9 1.2-7.8 1.3-0.6 2.6,0.7 1.3-2.8 1.3,1.5 1.3,0.2 1.3,1.1 1.3,0.5 1.2-1.3 1.3,2.3 1.3-5.2 1.3,2.5 1.3,0.7 1.3-5.6 1.3,3.4 1.3,5.4 1.2-0.8 1.3-2.1 1.3,1.1 1.3-5 1.3,1.5 2.6-0.8 1.3,0.4 1.2,7.6 2.6-2.2 1.3-4.2 1.3,0.8 1.3-4.5 1.3,1.6 1.3-0.2 1.2,5.6 1.3-1.7 1.3-2.9 1.3,5.8 1.3-1.2 1.3-6.8 1.3-0.9 1.3,10.8 1.2-4.7 2.6,5.4 2.6-7 1.3-0.3 1.3,1.1 1.3-2.9 1.3,5.9 1.2-1.5 1.3-4.9 1.3,2.1 1.3,4.3 1.3,1.2 1.3-3.5 2.6-0.8 1.2,1.4 1.3-0.8 1.3,2.1 1.3-1.6 2.6,3.4 1.3-3.8 1.3,2.5 1.2,0 1.3-3.7 1.3,0.6 1.3-4.3 1.3,0.2 1.3,5.5 1.3-0.5 1.3,0.9 1.2,1.8 1.3-8.5 2.6,6.2 1.3-6.8 1.3,3.2 1.3-0.3 1.3,3.6 1.2,5.6 1.3-8.8 1.3,4.1 1.3,2.1 1.3-5.9 1.3,0 1.3,4.4 1.3-2.6 1.3-1.5 2.5,3.1 1.3-6 1.3,5.2 1.3-4.2 1.3,3.6 1.3,0.6 1.3-4.5 1.2,5.5 1.3-2.8 1.3-0.5 1.3-1.8 2.6,7.8 2.6,0.7 1.2-1.8 1.3-2.9 2.6,1.1 1.3-1.1 1.3,1.8 1.3-1.9 1.3-0.4 1.2-5.9 1.3,6.9 2.6,0.1 1.3,1.5 1.3-4.6 1.3,6 1.3-9.4 1.2,10.3 2.6-7.4 1.3,1.3 1.3-0.6 1.3,6.5 1.3-6.8 1.3,0.8 1.3-2.8 1.2,4.5 1.3-0.3 1.3,4.8 1.3-6.1 1.3,4.6 2.6-8 1.3,7.6 1.2-3.2 1.3,2.1 1.3,0.2 1.3,3.8 1.3-4.2 2.6-4.8 1.3-0.8 1.2,4.9 1.3-3.1 2.6,5.2 1.3-1.2 1.3-3.7 1.3,0.5 1.3,6.8 1.2-6.3 1.3,2.4 1.3-2.7 1.3,1.3 1.3,4 1.3,0.3 1.3-3.5 2.5-0.6 1.3,3.6 1.3-7.1 1.3,10.5 1.3-10.3 1.3,4.3 1.3,0.9 1.3-6.2 1.3,5.1 1.2-0.5 1.3,1.7 1.3-3 1.3,0 1.3-2.6 1.3,0.9 1.3,3.2 1.3,1.8 1.2-0.6 1.3,0.9 1.3-0.8 1.3,0.4 1.3-2.5 1.3,0.6 1.3,2.3 1.3-2.7 1.2,6.9 1.3-5.8 1.3,6.1 1.3-5.3 1.3-2.8 1.3,1.3 1.3,3.6 1.3-2.5 1.2-0.1 1.3,1.2 1.3-2 1.3,2.2 2.6,1 1.3-3.9 1.3,3.7 1.2,1.6 1.3-6.2 1.3,4.2 1.3,1.9 1.3-5.6 1.3,3.4 1.3-0.1 1.3,0.8 1.2-4.1 1.3,0 1.3-0.9 1.3,4.6 1.3-8.3 1.3,8.1 1.3,1.4 1.3-2.1 1.3,3.9 1.2-2.7 2.6-2.6 1.3-3.1 2.6,4.3 1.3-0.9 1.3,3.3 1.2-7.1 1.3,3.3 1.3-0.6 1.3,2.7 2.6,1.2 2.6-1.1 1.2-3.7 1.3,4.1 1.3-3.4 1.3-0.7 1.3,1.2 1.3-1.2 1.3,8.3 1.3-6.8 1.2,2 1.3-4.8 2.6,4.4 2.6-1.4 1.3-4.1 1.3,5.7 1.2-1.8 1.3,2.2 1.3-2.1 1.3-0.3 2.6,1.4 1.3-4.4 2.6,2.7 1.2,2.8 1.3-2.7 1.3,0.8 1.3-2 1.3,0.9 1.3,3.2 2.6-6.5 2.5,7.7 1.3-1.8 1.3-3.6 1.3-0.7 1.3,7.1 1.3-6.7 1.3-1.6 1.2,0.5 1.3,7.3 2.6-6.9 1.3,1.5 1.3,2.9 1.3,1.6 2.5-3.9 1.3,4 1.3-2.1 1.3-3.7 1.3-0.2 1.3,3 1.3-3 1.3,3.9 1.2,1.3 1.3,0.1 1.3,1 1.3-1.5 1.3-0.3 1.3-6.3 1.3,2.9 1.3-3.3 1.3,8.5 1.2-4.4 2.6,5.5 1.3-5.2 1.3,3.3 2.6-8.4 1.3,6.5 1.2,0.5 2.6,3.6 1.3-3.2 1.3,1.5 1.3-2.5 1.3,1.3 1.3-1.7 1.2-0.4 1.3-1.8 1.3,6 1.3-0.9 1.3-5.6 1.3,1.3 1.3,4.2 1.3-8.3 1.2,13.7 1.3-6.2 1.3-0.1 1.3-2.1 1.3,4.7 1.3-3.4 1.3-0.5 1.3-2.4 1.2,7.8 1.3-3.1 1.3-0.1 1.3-4.1 1.3-2.4 1.3,0.6 1.3,6.2 1.3-2.4 1.3,1.1 1.2-0.4 1.3,1.8 1.3-2.3 1.3,0.7 1.3-1.6 1.3,1.8 1.3-6.8 1.3,10.6 1.2-2.7 1.3,0 2.6-3.8 1.3,2.5 1.3-7.7 1.3,6.6 1.3-2.7 1.2,3.8 1.3,1.7 1.3-8 1.3,8.3 1.3,1.7 2.6-4.3 1.3-3 1.2,4.2 1.3,0 2.6-2.6 1.3,4 1.3-2.8 1.3,2.2 1.3-2.5 1.2-0.1 2.6-3.3 1.3,5.8 1.3,0.9 1.3-2.6 2.6,0.3 1.3-2 1.2,1.7 1.3-1.8 1.3,2 1.3,0.4 1.3,1.9 1.3-3.8 1.3,1.6 1.3-2.9 1.2,1.5 1.3,2.8 1.3-1.8 1.3,0.8 1.3,0.2 1.3,3 1.3-3.9 1.3,0.4 1.2,3.1 1.3-3.6 1.3-0.2" stroke="#2ca02c" stroke-width="1.3"/><path d="M1149.5,1161.3l1.3,0.5 9-0.3 1.3,0.4 2.6,0 5.1-0.5 1.3,0.5 1.3-0.5 5.1,0.4 2.6-0.6 2.6,0.6 1.3-0.4 2.6,0.5 1.2-0.4 5.2,0.4 2.6-0.3 1.3,0.5 1.2-0.3 1.3,0.4 1.3-0.5 5.2,0.5 5.1-0.7 2.6,0.5 1.3-0.6 1.3,0.5 1.3-0.5 2.5,0 2.6,0.8 3.9-0.9 1.3,0.6 1.3-0.3 1.2,0.5 2.6-0.7 6.5,0.1 5.1,0.1 1.3,0.6 1.3-0.4 3.8,0.1 1.3-0.4 2.6,0.2 1.3-0.7 1.3,0.5 5.1-0.1 2.6,0.7 1.3-0.9 1.3,0.9 6.4-0.8 1.3,0.2 1.3,0.8 2.6-0.6 2.6,0.5 2.5-0.8 3.9,0.7 2.6-1 1.3,0.8 1.2-0.4 3.9,0.6 1.3-0.5 2.6,0.3 2.5-0.3 1.3-0.5 1.3,0.6 2.6,0.3 1.3-0.4 2.6,0.2 1.3-0.3 10.3,0.5 1.2-0.6 1.3,0.5 1.3-0.7 1.3,0.9 1.3-0.4 3.9,0.5 2.5-0.8 1.3,0.6 3.9-0.4 1.3,0.7 1.3-0.4 1.2,0.4 1.3-0.7 2.6-0.1 6.4,0 1.3,0.5 1.3-0.3 1.3,0.3 3.9-0.6 1.3,0.4 3.8-0.4 2.6,0.5 1.3-0.4 2.6,0.3 1.3-0.5 3.8,1 2.6-0.8 1.3,1.1 1.3-1.1 1.3,0.5 1.2,0 1.3-0.5 1.3,0.7 6.5-1 1.2,1 1.3-0.2 1.3-0.9 1.3,0.4 2.6-0.3 2.6,0.7 3.8-0.6 1.3,0.3 1.3-0.5 1.3,1 5.1-0.4 1.3,0.2 1.3-0.5 3.9,0.5 3.8,0.1 1.3-0.4 1.3,0.6 3.9-0.8 2.6,0.8 2.5-0.6 6.5-0.2 1.3,0.4 9-0.1 1.3,0.6 2.5-0.8 2.6,0.3 2.6-0.4 1.3,0.5 1.3-0.4 1.2,0.6 2.6-0.8 2.6,0.8 1.3-0.4 3.9-0.1 7.7,0.5 3.8-0.6 1.3,0.4 3.9-0.4 3.9,0.6 2.5-0.7 3.9,0.5 5.1-0.3 3.9,0.3 1.3-0.3 1.3,0.4 1.3-0.4 2.5,0.5 2.6-0.3 1.3-0.7 2.6,1 1.3-0.6 2.6,0.6 3.8-0.9 2.6,0.7 3.9-0.6 1.2,0.6 1.3-0.6 2.6,0.7 1.3-0.5 2.6,0.6 3.8-0.5 1.3,0.4 1.3-0.6 2.6,0.6 2.6-0.6 1.2,0.4 3.9-0.4 5.2,0.8 1.2-0.6 1.3,0.2 1.3-0.3 1.3,0.4 1.3-0.5 2.6,0.1 1.3,0.6 2.5-0.2 1.3-0.7 3.9,1.1 2.6-0.9 1.3,0.5 1.2-0.3 1.3,0.6 2.6-0.7 2.6,0.5 2.6-0.4 2.5,0.5 1.3-0.4 6.5,0.4 2.5-0.7 11.6,0.6 1.3-0.8 1.3,0.2 1.3,0.7 1.3-0.5 5.1-0.1 1.3,0.5 3.9-0.5 3.8,0.3 5.2-0.6 3.9,0.8 7.7-0.6 1.3,0.3 1.3-0.3 2.5,0.4 3.9-0.1 1.3,0.6 2.6-0.8 3.8,0.5 1.3-0.6 1.3,0.7 6.4-0.7 1.3,0.8 1.3-0.4 1.3,0.5 1.3-0.4 1.3,0.2 9-0.6 5.1,0.5 2.6-0.7 2.6,0.8 2.6-0.4 2.5,0.3 2.6-0.3 1.3,0.4 2.6-0.5 1.3,0.4 2.5-0.6 2.6,0.2 1.3,0.5 9-0.7 2.6,0.6 1.3-0.5 5.1,0.3 1.3-0.7 1.3,1.1 1.3-0.7 9,0.3 1.3-0.5 6.4,0.8 1.3-0.5 3.9,0.4 5.1-0.7 1.3,0.4 6.5-0.1 2.6,0.8 1.2-1.2 1.3,0.5 5.2-0.2 1.3,0.5 2.5-0.6 3.9,0.7 1.3-0.8 3.9,0.8 1.2-0.2 2.6,0.3 2.6-0.4 1.3-0.6 1.3,0.9 1.3-0.6 6.4,0.3 1.3-0.4 2.6,0.6 2.5-0.7 1.3,0 1.3,0.6 2.6-0.6 2.6,0.6 2.5-0.2 1.3,0.5 1.3-0.6 3.9-0.4 3.8,0.1 1.3,0.7 1.3,0 1.3-0.4 3.9,0.2 2.5-0.5 5.2,1 1.3-0.5 3.8,0.1 1.3-0.5 2.6-0.2 1.3,1.2 2.6-0.9 7.7,0.2 1.3-0.7 1.3,0.8 1.3-0.4 3.8,0.3 2.6-0.3 5.2,0.5 1.2-0.6 1.3-0.1 1.3,1 3.9-0.7 1.3,0.5 3.8-0.5 1.3,0.4 1.3-0.5 1.3,0.5 1.3-0.4 1.3,0.4 2.5-0.4 5.2,0.3 2.6-0.6 3.8,0.7 1.3-0.7 1.3,0.6 2.6-0.5 1.3,1.1 1.3-0.6 1.3,0.3 2.5-0.4 1.3,0.4 2.6-1 1.3,0.7 2.6-0.5 2.5,0.7 1.3-0.4 1.3,0.3 1.3-0.5 1.3,0.5 1.3-0.6 1.3,0.7 1.2-0.2 1.3,0.5 1.3-1.3 1.3,0.7 1.3,0.1 3.9-0.2 1.2-0.5 2.6,0.7 3.9-0.2 3.8,0.5 1.3-0.5 1.3,0.3 1.3-0.5 2.6,0.7 1.3-0.8 1.3,0.9 1.3-1.3 7.7,1 1.3-0.2 1.3,0.7 1.2-0.8 5.2,0.5 1.3-0.4 2.6,0.1 3.8-0.4 1.3,0.6 1.3-0.3 1.3,0.5 6.4-0.6 3.9,0.5 1.3-0.5 1.3,0.4 1.2-0.4 1.3,0.2 1.3-0.6 1.3,0.8 2.6-0.6 2.6,0.4 1.3-0.5 6.4,0.8 1.3-0.8 1.3,0.4 2.5-0.4 2.6,0.4 1.3-0.4 1.3,0.9 1.3-0.8 2.6,0.3 2.5-0.3 1.3,0.5 5.2-0.4 2.5,0.5 2.6-0.7 3.9,0 1.3,0.4 2.5,0.2 2.6-0.3 1.3,0.4 1.3-1 2.6,1.1 1.3,0.1 1.3-0.6 2.5,0.4 5.2-0.6 1.3,0.7 1.3-0.3 1.2,0.3 3.9-0.9 1.3,0.8 1.3-0.3 7.7,0.3 1.3-0.5 1.3,0.3 1.3-0.4 2.5,0.8 2.6-0.4 1.3-0.6 1.3,0.8 1.3-0.5 2.6,0.4 1.2-0.4 1.3,0.4 1.3-0.7 3.9,0.6 2.6-0.3 1.2,0.4 5.2-0.2 1.3,0.5 1.3-0.5 1.3,0.2 1.3-0.4 1.2,0.5 3.9-0.6 1.3,0.3 1.3-0.4 3.8,0.8 2.6-0.5 2.6,0.4 1.3-0.4 2.6,0.4 1.2-0.3 2.6,0.5 2.6-0.6 2.6,0.5 2.5-0.6 3.9,0.5 1.3-0.2 1.3,0.3 7.7-0.7 2.6,0.7 5.1-0.7 1.3,0.7 2.6-0.5 3.9,0.4 1.3-0.5 2.5,0.6 1.3-0.4 1.3,0.4 2.6-0.6 1.3,0.8 2.5-0.5 1.3-0.6 3.9,0.6 5.1-0.2 2.6,0.5 1.3-0.4 2.6,0.4 2.6-0.2 1.2-0.5 2.6-0.1 1.3,1 2.6-0.9 1.3,0.5 1.3-0.3 1.3,0.4 1.2-0.3 2.6,0.4 1.3-0.6 2.6,0.1 1.3,0.6 1.3-0.7 1.2,0.4 1.3-0.4 1.3,0.5 1.3-0.6 5.2,0.8 2.5-0.8 2.6,0.4 1.3-0.4 2.6,0.6 3.8-0.5 1.3,0.8 1.3-0.9 5.2,0.7 1.2-0.6 1.3,0.3 1.3-0.3 1.3,0.5 1.3-0.4 1.3,0 1.3,0.5 2.6-0.8 1.2,0.6 1.3-0.5 2.6,0.6 2.6,0 1.3-0.7 1.3,0.8 3.8-0.6 1.3,0.6 9-0.6 2.6,0.7 2.6-0.5 1.3-0.7 2.5,0.6 1.3,0.9 2.6-0.9 2.6,0.3 2.5-0.5 2.6,0.3 1.3,0.5 2.6-0.7 3.9,0.9 2.5-0.8 1.3,0.3 2.6-0.3 5.1,0.3 2.6-0.3 2.6,0.5 2.6-0.6 5.1,0.3" stroke="#d62728" stroke-width="1.9"/><path d="M1149.5,1123.5l1.3-4.3 1.3,15.8 1.3-15.9 1.3,7.2 1.2-7.8 2.6,9.1 1.3-3.3 1.3,4.1 1.3-0.8 1.3-2.1 1.3-5 1.2,8.6 1.3-6 1.3,2.1 1.3-6.7 1.3,5.2 1.3-1.5 1.3-2.9 1.3,9.3 1.2-2.7 1.3,4.3 1.3-2.3 1.3-4.2 1.3,1.9 1.3-2 1.3,3 1.3,1.1 1.2-1.9 1.3,2.7 1.3,0.9 1.3,1.8 1.3-5.1 1.3-2 1.3,6.1 1.3-2.7 1.2,6.6 1.3-3.8 1.3,13.6 1.3-13.1 1.3-6.1 1.3,3 1.3-2.8 1.3,12.9 2.5-11.5 1.3-2.6 1.3,4.4 1.3-3.3 1.3,3.9 1.3-1.3 1.3-5.6 2.5,7.7 1.3-5.3 2.6,3.8 1.3-4.3 1.3,12.7 1.3-12.4 1.3-4.7 2.5,13.5 1.3,2 1.3-17.7 2.6,12.7 3.8-4.6 1.3-3.5 1.3,2.2 1.3,10 1.3-7 1.3-0.5 1.3-7.2 1.3,8.7 1.2,2.9 1.3-3.9 1.3-2.1 1.3,7.5 1.3-10.4 1.3,4.3 1.3-3.4 2.6,1 1.2-3.1 1.3-1 1.3,20.6 1.3-14.4 1.3-4 2.6,5.8 1.3-2.5 1.2,3.4 1.3-1.2 1.3,10.5 1.3-12.9 1.3-6.1 1.3,4 1.3,0.1 1.3,1.8 1.2,17.4 1.3-18.6 1.3,1.6 1.3,0.7 1.3-1.4 1.3,2.9 1.3-2.5 2.5-3.2 1.3,18.3 1.3-17.7 1.3,2.3 1.3,8.9 1.3-1.2 1.3-6.3 1.3,3.3 1.2-6.2 1.3,6.9 1.3-3.3 2.6,1.2 1.3-0.6 1.3-2.1 1.3-0.4 1.3,2.2 1.2-2.5 1.3-1.4 2.6,4.5 1.3-0.1 1.3-0.7 1.3,0.2 1.3-2.3 1.2-9.5 2.6,9.6 1.3-2 1.3,0 1.3-2.5 1.3-0.6 1.3,8.7 1.2-11.8 1.3,11.3 1.3-3.5 2.6,6.6 1.3,0.3 1.3-13.8 1.3,1.7 1.2,42.6 1.3-31.8 1.3-8.6 1.3,9.2 2.6-10.3 1.3,15.7 1.3-13.8 1.2,4.3 1.3,6.6 1.3-3 1.3,15.4 1.3-19.3 1.3,17.1 1.3-16.4 1.3,2.1 1.3,0.7 1.2-4.1 1.3,3.4 1.3,1.2 1.3-6.3 2.6,8.5 1.3-9.1 1.3,8.9 1.2-5.6 1.3-1 2.6,4.6 1.3-1.7 1.3,0.1 1.3,2.6 1.3-6.8 1.2,5.1 1.3,17.7 1.3-24.5 1.3,7.2 1.3,2.8 1.3-5.1 2.6-0.3 1.2-7.1 1.3,9.1 1.3-6.5 1.3,1.5 1.3-1.9 1.3,5.3 1.3,0.8 1.3-0.4 3.8-6.5 1.3,11.8 1.3-1.2 1.3-6.2 1.3,1.1 1.3,3.8 1.3-4.8 1.2,7.5 1.3-10.6 1.3,7.5 1.3-2.8 1.3,0.2 1.3-2.6 1.3,6.6 1.3-7.5 1.2,1.5 1.3-4 1.3,4.3 1.3,1.5 1.3,6.1 2.6-12.2 1.3,7.3 1.2,0.1 1.3-1.2 1.3-3.5 1.3,9.1 1.3-12.4 1.3,4.3 1.3-0.5 1.3,2.5 1.2-6.8 1.3,8.3 1.3-4.3 1.3,2.4 1.3,4.8 2.6-6.9 1.3,3.5 1.2,17.8 1.3-18.7 1.3,2.9 1.3,0.8 1.3-4.1 1.3,3.5 1.3-5.2 1.3-0.5 1.2-2 1.3,1.1 1.3,4.3 1.3-2.4 1.3,5.5 1.3-5.5 1.3,3.2 1.3-6.4 1.3,7.1 1.2-3 1.3,3.2 1.3-4.8 1.3,0 1.3,5.7 1.3-10.3 2.6,11.7 1.2-1.8 1.3,3.2 1.3,0.6 1.3,10.5 2.6-18.7 1.3,7 1.3-4.4 1.2-7.2 1.3,7.2 1.3-1.2 1.3-4.4 1.3,5.4 1.3-2.9 1.3,4.6 1.3-1.5 1.2,11.3 1.3-12.6 1.3,2.7 1.3-3.4 1.3-1.3 1.3-0.2 1.3,2.1 1.3,3.4 1.2-5.6 1.3-0.6 2.6,10.9 1.3-7.3 1.3-4.2 1.3,0.6 1.3,7.1 1.3-8.7 1.2,7.7 1.3-6.3 1.3,4.7 1.3-4.9 1.3,9.6 1.3-5.4 1.3-3.2 1.3,4.7 1.2-0.9 1.3-0.3 1.3,1.9 1.3-6.2 1.3,0 1.3,3.3 1.3,12.3 1.3-13.9 1.2,0.6 1.3-1.2 1.3,2.2 1.3,0.8 1.3-5.6 1.3,6.9 1.3-1.4 1.3,5.5 1.2-4.9 1.3,0.4 1.3-0.5 1.3-3.2 1.3,4.1 1.3-3.5 1.3,10.9 1.3-7.9 1.2,4.9 1.3-7.8 1.3-0.8 1.3,5.6 1.3-1.3 1.3,4.2 1.3-5 1.3,2.6 1.3-5.1 1.2,1.7 1.3-2.5 1.3,5 1.3,3 1.3-5.6 1.3,1.8 1.3-8.4 1.3,5.6 1.2-4.2 2.6,6.1 1.3,4.2 2.6-7.5 1.3,1.9 1.3-0.9 1.2,0.1 1.3,5.7 1.3,2.2 1.3-4.1 1.3-2.6 1.3-4.9 1.3,11.6 1.3-5.9 2.5-4.7 2.6,6.6 1.3-5.6 1.3,0.8 1.3,8 1.3-6.3 1.2,6.1 1.3,3.2 1.3-5.6 1.3-0.3 1.3,4.2 1.3-13.9 1.3,11 1.3-5.8 1.3-1.3 1.2-5 1.3,8.7 1.3-6.8 1.3,9.5 1.3-3.8 2.6,3.3 2.5-10.1 1.3-0.8 2.6,11.3 1.3-1.1 1.3-4.9 2.6,0.1 2.5,5.1 1.3-4.7 1.3,1.6 1.3-5 1.3,7.4 1.3-5.4 2.5-4 1.3,0.1 1.3,10.4 1.3,0.6 1.3,10.5 1.3-11.6 1.3,5.2 1.3-13.4 1.2,3.4 1.3-1.9 1.3,3 1.3-3.5 1.3,3.2 1.3,0.4 1.3-6.2 1.3,10.7 1.3-5.9 1.2,7.4 1.3-10.8 1.3,6.1 1.3,3.4 1.3,2.2 2.6-13.3 1.3,22.5 1.2-10.1 1.3,1.7 1.3-17.1 1.3,11.9 1.3,3.2 1.3-5.7 1.3-1.5 1.3,11.4 1.2-8.7 1.3,1.9 1.3-4.9 1.3,5.2 1.3-4.1 1.3,0.6 1.3-2.8 1.3,5.9 1.2,0 1.3-3.5 1.3-0.6 1.3,36.1 1.3-29.8 1.3-2.3 1.3,2.7 1.3-8.3 1.2,4.9 1.3-1.7 1.3,4.2 2.6-0.7 1.3-2.9 1.3,4.3 1.3-6 1.3,7.3 1.2,2.7 1.3-5.9 1.3,2 1.3-6.1 1.3,1.9 1.3,3.6 1.3,1.9 1.3-5.1 1.2,5.2 1.3-4.3 1.3,4.6 1.3-3.2 1.3,3 1.3-2.1 1.3-5.8 1.3-0.3 1.2,7 1.3-0.7 1.3,4.4 1.3-6.2 1.3-2.6 1.3,6.2 1.3,0.2 1.3-4 1.2,2.9 1.3-2.4 1.3-4.3 1.3,3.4 1.3-0.7 1.3-3.8 1.3,5.2 1.3-1.4 2.5,4.5 1.3-7.5 1.3,9.5 1.3-4.7 1.3,4 1.3-1.1 1.3,1.5 3.8-8.3 1.3,10.1 1.3-6.7 1.3,2 1.3,0.7 2.6-2.6 1.2,0.9 1.3-0.3 1.3-6.9 1.3,6.5 1.3-0.7 1.3,4.7 1.3-7.1 1.3,5.1 1.2-1.4 1.3,2.2 1.3-2.2 1.3,2.7 1.3,1.1 1.3,0.3 1.3-3.2 1.3-1.2 2.5-5.3 1.3-0.6 1.3,7.9 1.3,0.2 1.3-4.6 1.3,5.1 1.3-6.4 1.2,0.3 1.3,6.3 1.3-5.4 1.3-2.2 1.3,20.9 1.3-15.5 1.3-0.4 1.3-2 1.3,3.8 1.2-3.4 2.6,3.4 1.3,0.7 1.3-4.9 1.3,4.7 1.3-3.6 1.3,6.6 1.2-5.3 2.6-1.7 1.3-1.9 1.3,1.3 1.3-0.1 1.3,2.6 1.3,15.1 1.2-12.3 1.3-1.3 2.6-5.6 1.3,2.1 1.3,0.4 1.3-1.7 1.3,21.5 1.2-19.7 1.3,0.9 1.3-1 1.3,1.3 1.3,3.4 1.3-2.9 1.3,16.1 1.3-22.8 1.2,1 1.3,6.5 1.3,0.7 1.3-2.7 1.3,4.8 1.3-8.7 1.3,4.1 1.3,1.3 1.3-4.8 1.2-0.8 1.3,3.6 1.3-2.7 1.3,8.5 1.3-2.9 1.3,0.3 1.3,2.5 1.3-8 1.2-4.9 1.3,11.9 1.3-2.4 1.3,11.7 1.3-12.6 1.3-0.9 1.3,2.5 1.3-3.6 1.2,4.2 1.3-5.5 2.6,1.2 1.3,3.6 2.6-4 1.3,4.4 1.2,0.3 1.3,4.1 1.3-5.6 1.3-1.2 1.3-3.5 1.3,6.9 1.3,0.7 1.3-8.4 1.2,0.3 1.3,7.1 1.3-2 1.3,4.2 2.6-10 1.3,1.6 1.3,5.9 1.3-4.2 1.2,12.9 1.3-13.1 1.3,2.8 1.3-3.8 1.3-2 1.3,3 2.6-0.3 1.2-1.5 1.3,4.1 1.3-0.8 1.3-0.1 1.3-4.7 1.3,3.7 1.3-1.3 2.5,6.2 2.6-6 1.3,2.6 1.3-2.1 1.3-3.7 1.3-6.7 1.3,43.1 1.2-36.3 1.3-8.7 1.3-0.6 1.3-10.3 1.3,21 1.3-13.9 1.3,0.7 1.3,4 1.2-6.4 2.6,5.2 1.3-3.9 1.3,3.1 1.3-2.1 1.3,3.9 2.6-4.8 2.5,4.9 1.3-1.4 1.3-3.6 1.3,5.4 1.3-0.5 1.3-5.2 1.3,1.6 1.2,0.3 1.3,1 1.3-2.1 1.3-1 1.3,0.9 1.3,5.2 1.3-5.7 1.3,5.4 1.2-8.1 1.3,5.2 1.3-2.5 1.3,0.6 1.3,2.3 1.3-4.4 1.3,2.3 1.3-4.6 1.2,3.5 1.3,0.7 1.3-5.3 2.6,6 1.3,1.9 1.3-6.6 1.3,1.7 1.2,0 1.3,3.7 2.6,1.3 1.3-4.9 1.3,3.1 1.3-2 1.3,6.9 1.3-7.9 2.5,9.2 2.6-7.7 1.3-2.7 1.3,10.4 2.6-7 1.2,6.8 1.3-6.9 1.3,3.1 1.3-5.9 1.3,8.1 1.3-5.9 1.3,2.5 1.3,5 1.2-9.2 1.3-5.7 1.3,4 1.3-8.1 1.3,26.7 1.3-16.3 1.3-5.5 1.3,3.4 1.2,14.5 1.3-15.8 1.3,4.2 1.3-15.8 1.3,13.6 1.3-4.3 1.3,8.7 1.3-9 1.2,18.7 1.3-9.6 1.3-3.5 1.3,6.5 1.3-14.1 1.3,5.2 1.3-9 1.3,16.6 1.3-3.2 1.2-8.3 1.3,8.6 1.3,48.5 1.3-49.6 1.3,8.9 2.6-3.5 3.8,4.3 1.3-1.2 2.6-10 1.3,15.1 1.3-1.8 1.3-3.7 1.2-7.1 1.3,10 1.3-14 1.3,0.2 1.3,20.3 1.3-13.4 1.3,0.3 2.5,10.7 1.3-9.5 1.3,2.9 1.3-7 1.3,20.3 2.6-23.9 1.3,0.5 1.2,1.4 1.3,6.3 1.3-3.9 2.6,6.5 1.3,16.2 1.3-20 1.3,10.1 1.2-12.1 1.3,9.2 1.3-7.1 1.3,2.2 1.3,3.8 1.3,16.8 1.3-19.4 1.3-9.4 1.3,5 1.2,2.9 1.3-5 1.3,9 1.3,1.6 1.3-2.9 1.3-8.7 1.3,6 1.3-1.9 1.2,0 1.3,2.4 1.3-7.6 1.3,2.3 1.3,7.2 1.3,0.8 1.3-4.6 1.3,4 2.5-7.6 1.3,3 1.3,8.2 1.3-5.7 2.6,2.4 1.3-10.8 1.2,19.1 1.3-13.5 1.3-0.2 1.3-1.6 1.3,3.6 1.3,5.9 1.3-17.3 1.3,14.7 1.2-7.9 1.3,7.9 1.3-8.2 1.3,8.1 1.3-13.1 1.3,5.8 1.3,9.6 1.3-15.5 1.3,16.9 2.5-14.3 1.3,7.1 1.3-8 1.3,5.8 1.3,3 1.3-8.8 1.3,5.7 1.2,2.5 1.3-6.9 2.6,11.1 1.3-3.1 1.3-15.5 1.3,0.9 1.3,18.5 1.2-11.4 1.3,9.5 2.6-9.1 1.3,8.2 1.3-3.4 1.3-6.7 1.3,5.4 2.5,0.8 1.3,5.3 2.6-4 1.3,11 2.6-22.9 1.2,17.8 1.3-3.3 1.3-2.2 1.3-5.8 1.3,9.7 1.3-8.5 1.3,5.5 1.3-0.4 1.3-6 1.2-2 1.3-1.1 1.3,10.9 1.3-11 1.3-0.1 1.3,3.5 1.3-0.7 1.3,2 1.2,0.9 2.6-9.2 1.3,9.5 2.6-6 1.3,11.6 1.3-15.2 1.2,6.3 1.3-5.5 1.3,8.6 1.3,2.9 1.3-3.7 1.3-2.3 1.3,6.2 1.3-9.4 1.2,3.2 1.3,6.7 1.3-7.8 1.3,3.1 1.3-1 3.9,6.2 1.2-6.8 1.3,0.3 1.3-2.3 1.3,6.1 1.3-5.9 1.3-2.1 1.3,10.2 2.6-17.3 1.2,13.8 2.6-2.4 1.3,2.5 1.3-7.2 1.3,4.9 1.3,0 1.3,3.5 1.2-6.9 1.3,3.3 1.3,1.6 1.3-0.5 1.3-9.9 1.3,8.2 1.3-1.5 1.3,5.7 2.5-9.3 1.3,10.1 1.3-8.7 1.3,14.4 1.3-11.8 1.3,3 1.3,1.4 1.2-9.3 1.3,1.7 1.3-0.7 1.3-3.4 1.3,5 1.3-0.2 1.3,3.2 1.3-10.1 1.2,5.1 1.3,8.7 1.3,0.4 1.3,9.6 2.6-21 1.3,5.2 1.3-4.1 1.3,9.5 1.2,0 1.3-10.4 1.3,16.9 1.3-4.3 1.3,4.8 1.3-7.6 1.3-17.1 1.3,17.5 1.2-9.5 1.3-3.2 1.3,12.1 1.3,0.2 1.3-5.5 1.3-1.9 1.3,11.8 1.3-4 1.2-13.1 1.3,13 1.3,8.6" stroke="#9467bd" stroke-width="1.3"/><path d="M1149.5,1162.5l1.3,0 1.3-192.4 1.3,5.8 1.3-2.8 1.2-8.2 1.3,86.9 1.3-85.3 1.3,9.2 1.3-68.6 1.3,255.4 1.3,0 1.3-182 1.2-12.9 1.3,5.4 1.3,189.5 1.3-202.8 1.3-1.9 1.3-20.4 1.3,19.1 1.3-4.1 1.2-26 2.6,33.8 1.3-5.7 1.3-12.6 1.3-24 1.3,37 1.3-0.8 1.2-21.5 1.3,31.8 1.3-10.5 1.3-20.4 1.3,4.8 1.3,36 1.3-38.3 1.3,59.9 1.2-66.6 1.3,79.8 2.6-68.1 1.3-7.7 1.3,19.6 1.3,10.6 1.3-19.5 1.3,1 1.2-25.8 2.6,20.5 1.3-16.5 1.3,22.8 1.3,12.4 1.3-27 1.3-0.4 2.5,23.5 1.3-18.3 1.3,48.1 1.3-57 1.3,3.2 1.3,115 1.3-108.1 1.2,18 1.3,5.3 1.3,13.3 1.3-20.5 1.3,66 1.3-104.3 1.3,59.7 1.3-30.5 1.2-15.4 1.3,16.7 1.3-40.5 1.3,50.4 1.3-28.7 1.3,25.4 1.3-45.5 1.3,25.9 1.2,6 1.3,24.5 1.3-63.2 1.3,16.8 1.3-0.5 1.3-7.5 2.6,32.3 1.3,2.6 1.2-0.3 1.3-41.1 1.3,52.7 1.3-16.6 1.3-5.5 1.3-10.7 1.3-7.1 1.3,34.2 1.2,8.8 2.6-56.7 3.9,28 1.3-12.2 1.3,9.9 1.2-20.8 1.3,30.6 1.3-18.4 1.3,4.3 1.3-13.1 1.3,5.8 1.3-45.7 1.3,20 1.2-0.5 1.3,68.7 1.3-33.7 1.3,4.9 1.3-22.9 1.3,54.9 1.3-68.4 1.3,1.6 1.2,46.4 1.3-6.8 1.3-3.9 2.6-29.5 1.3-28.6 1.3,44.4 1.3-19.7 1.3,11.8 1.2-32.7 1.3,20 1.3-27.1 1.3,63 1.3-18.3 1.3,12.3 1.3-47.4 2.5,36 1.3,2.6 1.3-19.5 1.3,23.9 1.3,4.3 2.6-70.3 1.3,55.2 1.2,6 1.3,12.4 1.3,3 1.3-38.8 1.3-7.1 1.3,17.1 1.3-39.6 1.3,36.6 1.2,262.4 1.3,0 1.3-5.2 1.3-204.7 1.3,14.9 1.3-5.2 1.3,5.7 1.3-8.2 1.2-19.8 1.3,20.9 1.3-4.2 1.3-16.2 1.3,2.8 1.3-17.6 1.3,63.1 1.3-49.3 1.3,74.4 1.2-62.4 1.3-11.8 1.3-4.2 1.3,0.7 1.3,14.7 1.3-24.4 1.3,31.6 1.3-2.4 1.2-15.8 1.3,22.6 1.3-45.5 1.3,19.1 1.3-19.5 2.6,78 1.3-44.5 1.2-9.6 1.3,22.2 1.3-16.3 1.3,6.6 1.3-27.5 1.3,38.2 1.3-28.7 1.3,28.3 1.2,5.3 1.3-4.3 1.3,8 1.3-22.5 1.3-14.9 1.3,14.5 1.3-7.8 1.3-17 1.2,22.8 1.3,1.2 1.3,7.9 1.3,22.4 1.3-39.9 1.3,42.3 1.3-40.7 1.3,11.2 1.3-19.3 1.2,20.1 1.3,12.7 1.3-20 1.3,15.5 1.3-6.5 1.3-3.8 1.3,2.9 1.3,0.9 1.2,10.8 1.3-10.9 1.3,32.9 1.3-33.5 1.3,17.5 1.3-39.3 1.3-2.6 1.3,54.5 1.2-35.5 1.3,4.5 1.3,15.6 1.3-26.9 2.6,38.9 1.3-25.5 1.3-2.1 1.2-4.3 2.6,39.6 1.3-0.4 1.3-18.2 2.6-18.2 1.3,42.5 1.2-73.6 2.6,46.7 1.3-3.8 1.3-12.5 1.3-40.2 1.3,42.1 2.5-11.9 1.3,9.4 1.3-39.8 1.3,47.9 1.3-21.9 1.3,9.8 1.3-8 1.3,30.6 1.3-50.5 1.2,32.2 1.3-2.8 1.3,16.5 1.3,35 1.3-61 1.3-7.4 1.3,3.9 1.3-8 2.5,20.1 1.3-14.1 1.3,59.8 1.3-43.9 2.6-24.2 1.3,18 1.2,10.1 2.6-39.4 1.3,36.5 1.3-2.2 1.3,0.7 1.3-23.8 1.3,53.1 1.2-38.5 1.3-14.5 1.3,34.8 1.3-40.2 2.6,35.2 1.3-13.2 1.3,30.2 1.2-17 1.3-42 1.3,47.5 1.3,10.1 2.6-43.6 1.3,16.5 1.3,40 1.3-29.4 1.2,121.1 1.3-111.2 1.3,3.4 1.3-30.3 2.6,36 1.3-17.9 1.3-27.4 1.2,23.4 1.3-25 1.3-10.6 1.3,26.3 1.3,112.5 1.3-89.1 2.6-39 1.2,10.7 1.3-5 1.3,17.4 1.3-13.3 1.3,13.6 1.3-2.7 1.3,17 1.3,4.9 1.2-19.5 1.3,97.2 1.3-89 1.3-29.2 1.3,13.8 1.3-54.2 2.6,63.3 1.2-25.3 1.3,7.4 1.3,18.6 1.3-32 2.6,74.4 1.3-69.1 1.3,25.2 1.3-37.7 1.2,38.2 1.3,9.5 1.3-49 1.3,47 2.6-45.5 1.3,24 1.3,3.4 1.2-3.3 1.3,140.7 1.3-124.5 1.3-25.6 1.3,0.6 1.3-31.7 1.3,48 1.3,10.4 1.2-29.8 1.3,20.3 1.3-12.4 1.3,2.8 1.3-18.8 1.3,32.9 1.3-10.2 1.3,44.3 2.5-73.9 1.3,40 1.3,0.3 1.3,9.3 1.3,26.1 1.3-51.5 1.3,24.6 1.2-33.6 1.3,7.4 1.3-9 1.3,25.2 1.3-43.2 1.3,24 2.6,16.7 1.3-5 1.2-20.1 1.3,20.4 1.3-24.5 1.3,9 1.3-14 1.3,9.6 1.3,119.5 1.3-70.1 1.2-40.2 1.3-9 1.3,11.4 1.3-7.3 1.3,18.7 1.3-1.7 1.3,10.1 1.3-42 1.2,77.2 1.3-43.5 1.3,15.2 1.3,68.2 1.3-118.8 2.6,39.3 1.3-39.3 1.2,0 1.3,8.1 1.3,3.4 1.3-6.8 1.3,11.2 1.3,72.7 2.6-90.4 1.2,100 1.3-109.7 1.3,74.3 1.3-50.3 1.3-5.1 1.3,24.1 1.3-14.6 1.3-5.2 1.3,56.4 1.2-32.5 1.3-7.1 1.3-21 1.3-4.5 1.3,21.7 1.3,0.5 1.3-2 1.3-15.1 1.2,38.2 1.3,5.2 1.3-26.2 1.3,22.4 2.6-21.2 1.3-7 1.3,28.3 1.2-33.6 1.3,46.5 1.3,9.5 1.3-12.7 1.3-5.3 1.3-34.2 1.3,19 1.3,7.1 1.2-6.1 1.3-16.1 1.3,9.5 1.3,222.6 2.6,0 1.3-165.1 1.3,0.5 1.2-23.4 1.3,2.3 1.3-4.3 1.3,18.1 1.3,1.5 1.3-14.1 1.3,17.1 1.3-17.1 1.3,1.3 1.2,19.6 1.3-8.7 1.3,0.3 1.3-25.9 1.3-12 1.3,37.2 1.3-1.7 1.3,31.8 1.2-34.9 1.3,2.9 1.3,14.7 1.3-26.1 1.3,32.8 1.3-19.1 1.3-5.1 1.3,94.4 1.2-104.8 1.3-3 1.3,78.9 1.3-44.5 1.3-28.5 1.3,8.8 1.3,16.5 1.3-13.1 1.2,66 1.3-68.5 1.3-13.9 1.3,6.1 1.3-19.8 1.3,5.4 1.3,9.8 1.3-5.9 1.2-3.7 1.3,8.7 1.3,63.1 1.3-65.6 1.3,11.1 1.3-22.3 1.3,21.7 1.3-6.4 1.3,2.6 1.2-19.5 1.3,21.4 1.3,6.3 1.3-8.5 1.3,10.6 1.3-8.8 1.3,37.5 1.3-39.4 1.2-24 1.3,33.5 1.3-6.6 1.3,3.3 1.3-12.8 1.3,26.8 3.8-25.6 1.3,8.5 1.3,47.6 1.3-35.9 2.6-34 1.3,16.3 1.3,1.8 1.2-3.9 1.3,20.2 1.3-9.4 1.3-0.7 1.3-8.4 1.3,4.7 1.3,69.5 2.5-95.4 1.3,28.7 1.3-9.9 1.3,1.9 1.3-7.8 1.3,33.3 1.3-45.9 1.3,30.7 1.3-25.8 1.2,17.4 1.3,43.8 1.3-10 1.3-46.3 1.3,26 1.3-7.3 1.3,1.4 1.3,18.3 1.2-45.1 2.6,19.4 1.3-17.8 1.3,31.6 1.3-13.4 1.3-27 1.3,11 1.2,47.9 1.3,16.5 2.6-66.2 1.3,22.9 1.3-3.9 1.3-12.6 1.3,22.4 1.2-16.7 1.3-8.9 1.3,4.8 1.3,0.9 1.3,15 1.3-17 1.3,14.1 2.5-45.7 1.3,50.1 1.3,21.6 1.3-26.7 2.6-22.7 1.3-0.5 1.3,28.2 1.3,0 1.2-31.5 1.3,35.8 1.3-33.4 1.3,20 1.3-15.4 1.3,0.8 1.3-1.2 1.3,28.9 1.2-2.1 1.3-19.8 1.3,4.2 1.3-4.7 1.3-14.3 1.3,23 1.3,6.7 1.3,0.1 1.2-6.5 1.3-16.6 1.3,24.1 1.3-30.6 1.3,13.3 1.3,7.9 1.3,17 1.3-24.5 1.2-7 1.3,37.9 1.3-45.9 1.3-7.2 1.3,20.2 1.3-2.5 1.3,43 1.3-54.7 1.2,33 1.3-13.9 1.3,2.1 1.3-0.2 1.3,101.7 1.3-116.1 1.3,21.7 1.3,54.4 1.3-62.5 1.2-15.8 1.3,18.1 1.3,7.7 1.3-20.9 1.3-13.8 1.3,27 1.3-26.7 2.5,29.7 1.3-32.5 1.3,36.8 1.3-29 1.3,23.7 1.3-15 1.3,85.4 1.3-65.3 1.2-30.2 1.3,13.8 1.3,2.2 1.3,7.5 1.3,190.6 1.3,0 1.3-234 1.3,234 1.2,0 1.3-228.2 1.3-12.4 2.6,2.5 1.3-36.9 1.3,12.4 1.3-4.4 1.2,24.2 1.3,9.1 1.3,18.3 1.3-21.8 1.3,33.7 2.6-56.1 1.3-17.1 1.3,12.6 1.2,85.7 1.3-76.8 1.3,24.9 1.3-31.9 1.3,18.2 1.3-19.4 1.3-34 1.3,32.3 1.2-28.1 1.3,42.4 1.3,9.8 1.3,28.6 1.3-69.8 1.3,45 1.3-12.8 1.3,29.9 2.5-46.7 1.3,19.2 1.3,9.4 1.3,16.6 1.3-35.8 1.3-8.8 1.3,3.8 1.2,6.6 1.3,30.5 1.3-61.2 1.3,36.3 1.3,1.6 1.3-17.9 1.3,58.1 1.3-42.5 1.2,1 1.3-10.8 1.3-20.2 1.3,17.3 1.3,46.4 1.3-30.8 1.3-11.6 1.3,0.7 1.3,28.8 1.2,55.9 1.3-94.3 1.3,3.7 1.3,7.1 1.3,34.8 1.3-73 1.3,96.6 1.3-53.1 1.2,252.4 1.3-270.4 1.3-15.6 1.3,30.6 1.3-58.6 1.3,59 1.3-36.5 1.3,1.5 1.2,26.1 1.3-45.9 1.3,52.2 2.6-34.7 1.3,7.9 1.3-22 1.3-12.1 1.2,27.7 1.3,4.8 1.3-2.5 1.3-5.5 1.3-44 1.3,36.5 1.3-17.3 1.3,10.4 1.2,16.9 1.3-44.8 1.3,46 2.6-68.3 1.3,64.4 1.3-28.7 1.3,38 1.3-60.9 1.2,55.1 1.3,290.7 2.6,0 1.3-285.3 1.3,46 1.3-6.8 1.3,13.5 1.2,3.9 1.3,11.2 1.3,18.2 2.6-63.3 2.6,40.6 1.3,31.3 1.2-32.7 1.3,3.7 1.3,11.2 1.3-4.4 1.3-13 1.3-41.1 1.3,40.8 1.3,15.4 2.5-14.4 1.3,27.5 1.3-33.4 1.3-10.3 1.3,7.2 1.3-4.9 1.3,34.8 1.2,7.6 1.3-54.1 1.3,3.8 1.3,48.1 1.3-31.5 1.3,3.5 1.3-9.2 1.3,6.4 1.2,13 1.3-12.3 1.3,0.9 1.3,4 1.3,32.6 1.3,20.8 1.3-39.4 1.3,53.7 1.3-72 1.2-8 1.3,7.9 1.3,61 1.3-57.9 1.3-19.8 1.3,33.8 1.3-29.8 1.3,3.7 1.2,7.8 1.3-21.6 1.3,38.9 1.3-30.1 1.3,33.6 1.3-3.1 1.3,5.1 1.3-27.4 1.2,24.9 1.3-18.1 1.3,21.4 1.3-40.1 1.3-14.2 1.3,29.1 1.3-26 1.3,19.5 1.2-29.5 2.6,67.9 1.3-56.1 1.3,29.4 1.3,16.4 1.3-7.1 1.3,17.6 1.2-26.9 1.3,16.4 1.3-47 1.3,14.8 1.3,42.6 1.3-2.9 1.3-17.5 1.3,24.8 1.3,59.7 1.2-94.7 1.3,13.3 1.3-4.4 2.6-36.7 1.3-1.6 1.3,26.9 1.3-15.4 1.2,29.4 1.3-21.5 1.3,25.3 1.3,74.2 1.3-69.3 1.3-5.3 1.3-18 1.3-10.7 1.2,37.1 2.6-29.8 1.3-1.9 1.3,19.7 1.3-17.8 1.3,6.5 1.3-31.7 1.2,15.6 1.3,35.2 1.3,16.3 1.3-43.8 1.3-20.8 1.3,18.8 1.3-13.7 1.3,25.6 2.5,31.8 1.3-43.7 1.3-11.5 1.3,39.2 1.3-30.2 1.3,80.4 1.3-93 1.3,26.3 1.2,0.3 1.3-0.7 1.3-36 1.3,23.5 1.3,15 1.3,4.8 1.3,0.1 1.3-48.9 1.2,63.4 1.3-19.1 1.3-29.2 1.3-10.9 1.3,25.6 1.3-18.6 1.3,0.2 1.3-4.7 1.2,18.1 1.3-31.9 1.3,28 1.3-26.6 1.3,51.6 1.3-40.6 1.3,43 1.3,4.5 1.2-39.9 1.3,26 1.3-25.6 1.3,29.8 1.3-53.6 2.6,53.9 1.3-26.5 1.2-14.4 1.3,32.7 2.6-57.2 2.6,40.7 1.3,10.9 1.3,41 1.3-22.5 1.2,30.6 1.3-48.3 1.3,8.1 1.3-102.9 1.3,77.5 1.3,22.6 1.3,3.3 1.3-34.2 1.2,26.7 1.3,42.5 1.3-58.6 1.3-4.1 2.6-1.6 1.3-25 1.3-8.8 1.2,69 1.3-88.2 1.3,50.3 1.3-23.7 1.3,40.8 1.3-22.7 2.6,3.5 1.2-16 1.3,4.1 1.3,34.1 2.6-37.6 1.3,0.4 1.3,21.2 1.3-1.6 1.2-3.2 1.3,19.8 1.3,3.5 1.3-32.5 1.3,12.6 1.3,35 1.3-28.3 1.3-44.6 1.3-10.3 1.2,42.1 1.3-16.4 1.3,27.1 1.3-55.2 1.3,17.7 1.3,38.1 1.3-46.1 1.3,18.9 1.2-1.6 1.3,0.7 1.3,22.1 1.3-3.3 1.3-17.7 2.6,47.5 1.3-51.7 1.2,51.5 1.3-11.2 1.3,44.2" stroke="#8c564b" stroke-width="1.3"/><path d="M1150.8,1089.1l4.1,4.1l-4.1,4.1l-4.1,-4.1zM1155.9,1091.1l4.1,4.1l-4.1,4.1l-4.1,-4.1zM1162.4,1090.3l4.1,4.1l-4.1,4.1l-4.1,-4.1zM1167.5,1101.8l4.1,4.1l-4.1,4.1l-4.1,-4.1zM1171.4,1101.9l4.1,4.1l-4.1,4.1l-4.1,-4.1zM1177.8,1093.4l4.1,4.1l-4.1,4.1l-4.1,-4.1zM1184.3,1092.8l4.1,4.1l-4.1,4.1l-4.1,-4.1zM1189.4,1090.2l4.1,4.1l-4.1,4.1l-4.1,-4.1zM1190.7,1094.2l4.1,4.1l-4.1,4.1l-4.1,-4.1zM1203.6,1095.6l4.1,4.1l-4.1,4.1l-4.1,-4.1zM1216.5,1096.8l4.1,4.1l-4.1,4.1l-4.1,-4.1zM1233.2,1094.9l4.1,4.1l-4.1,4.1l-4.1,-4.1zM1234.5,1095.6l4.1,4.1l-4.1,4.1l-4.1,-4.1zM1275.7,1091.0l4.1,4.1l-4.1,4.1l-4.1,-4.1zM1318.2,1087.5l4.1,4.1l-4.1,4.1l-4.1,-4.1zM1359.4,1094.1l4.1,4.1l-4.1,4.1l-4.1,-4.1zM1360.7,1097.4l4.1,4.1l-4.1,4.1l-4.1,-4.1zM1362.0,1096.5l4.1,4.1l-4.1,4.1l-4.1,-4.1zM1403.2,1096.2l4.1,4.1l-4.1,4.1l-4.1,-4.1zM1445.7,1097.6l4.1,4.1l-4.1,4.1l-4.1,-4.1zM1488.2,1098.4l4.1,4.1l-4.1,4.1l-4.1,-4.1zM1489.5,1100.3l4.1,4.1l-4.1,4.1l-4.1,-4.1zM1530.7,1095.6l4.1,4.1l-4.1,4.1l-4.1,-4.1zM1573.2,1097.3l4.1,4.1l-4.1,4.1l-4.1,-4.1zM1615.7,1097.3l4.1,4.1l-4.1,4.1l-4.1,-4.1zM1617.0,1098.0l4.1,4.1l-4.1,4.1l-4.1,-4.1zM1658.2,1101.9l4.1,4.1l-4.1,4.1l-4.1,-4.1zM1700.7,1098.4l4.1,4.1l-4.1,4.1l-4.1,-4.1zM1743.2,1094.3l4.1,4.1l-4.1,4.1l-4.1,-4.1zM1744.5,1102.4l4.1,4.1l-4.1,4.1l-4.1,-4.1zM1785.7,1091.3l4.1,4.1l-4.1,4.1l-4.1,-4.1zM1828.2,1101.6l4.1,4.1l-4.1,4.1l-4.1,-4.1zM1870.7,1105.4l4.1,4.1l-4.1,4.1l-4.1,-4.1zM1872.0,1085.9l4.1,4.1l-4.1,4.1l-4.1,-4.1zM1913.2,1098.4l4.1,4.1l-4.1,4.1l-4.1,-4.1zM1955.7,1094.6l4.1,4.1l-4.1,4.1l-4.1,-4.1zM1998.2,1092.7l4.1,4.1l-4.1,4.1l-4.1,-4.1zM1999.4,1095.7l4.1,4.1l-4.1,4.1l-4.1,-4.1zM2008.5,1088.6l4.1,4.1l-4.1,4.1l-4.1,-4.1zM2040.7,1095.0l4.1,4.1l-4.1,4.1l-4.1,-4.1zM2083.2,1082.8l4.1,4.1l-4.1,4.1l-4.1,-4.1zM2125.7,1091.6l4.1,4.1l-4.1,4.1l-4.1,-4.1zM2134.7,1094.8l4.1,4.1l-4.1,4.1l-4.1,-4.1zM2168.1,1100.8l4.1,4.1l-4.1,4.1l-4.1,-4.1zM2210.6,1095.6l4.1,4.1l-4.1,4.1l-4.1,-4.1zM2253.1,1086.9l4.1,4.1l-4.1,4.1l-4.1,-4.1zM2262.2,1088.8l4.1,4.1l-4.1,4.1l-4.1,-4.1zM2295.6,1083.3l4.1,4.1l-4.1,4.1l-4.1,-4.1zM2338.1,1088.3l4.1,4.1l-4.1,4.1l-4.1,-4.1zM2380.6,1080.4l4.1,4.1l-4.1,4.1l-4.1,-4.1zM2389.7,1077.2l4.1,4.1l-4.1,4.1l-4.1,-4.1zM2393.5,1082.1l4.1,4.1l-4.1,4.1l-4.1,-4.1z" fill="#e377c2"/><path d="M1150.8,1148.5l4.1,4.1l-4.1,4.1l-4.1,-4.1zM1155.9,1148.9l4.1,4.1l-4.1,4.1l-4.1,-4.1zM1162.4,1147.4l4.1,4.1l-4.1,4.1l-4.1,-4.1zM1167.5,1147.7l4.1,4.1l-4.1,4.1l-4.1,-4.1zM1171.4,1148.0l4.1,4.1l-4.1,4.1l-4.1,-4.1zM1177.8,1147.7l4.1,4.1l-4.1,4.1l-4.1,-4.1zM1184.3,1148.1l4.1,4.1l-4.1,4.1l-4.1,-4.1zM1189.4,1147.9l4.1,4.1l-4.1,4.1l-4.1,-4.1zM1190.7,1148.4l4.1,4.1l-4.1,4.1l-4.1,-4.1zM1203.6,1147.9l4.1,4.1l-4.1,4.1l-4.1,-4.1zM1216.5,1147.0l4.1,4.1l-4.1,4.1l-4.1,-4.1zM1233.2,1148.3l4.1,4.1l-4.1,4.1l-4.1,-4.1zM1234.5,1147.4l4.1,4.1l-4.1,4.1l-4.1,-4.1zM1275.7,1147.5l4.1,4.1l-4.1,4.1l-4.1,-4.1zM1318.2,1147.3l4.1,4.1l-4.1,4.1l-4.1,-4.1zM1359.4,1148.8l4.1,4.1l-4.1,4.1l-4.1,-4.1zM1360.7,1149.1l4.1,4.1l-4.1,4.1l-4.1,-4.1zM1362.0,1148.9l4.1,4.1l-4.1,4.1l-4.1,-4.1zM1403.2,1149.0l4.1,4.1l-4.1,4.1l-4.1,-4.1zM1445.7,1150.0l4.1,4.1l-4.1,4.1l-4.1,-4.1zM1488.2,1148.7l4.1,4.1l-4.1,4.1l-4.1,-4.1zM1489.5,1148.4l4.1,4.1l-4.1,4.1l-4.1,-4.1zM1530.7,1149.5l4.1,4.1l-4.1,4.1l-4.1,-4.1zM1573.2,1149.2l4.1,4.1l-4.1,4.1l-4.1,-4.1zM1615.7,1149.4l4.1,4.1l-4.1,4.1l-4.1,-4.1zM1617.0,1149.9l4.1,4.1l-4.1,4.1l-4.1,-4.1zM1658.2,1149.3l4.1,4.1l-4.1,4.1l-4.1,-4.1zM1700.7,1150.2l4.1,4.1l-4.1,4.1l-4.1,-4.1zM1743.2,1150.9l4.1,4.1l-4.1,4.1l-4.1,-4.1zM1744.5,1150.4l4.1,4.1l-4.1,4.1l-4.1,-4.1zM1785.7,1150.4l4.1,4.1l-4.1,4.1l-4.1,-4.1zM1828.2,1150.8l4.1,4.1l-4.1,4.1l-4.1,-4.1zM1870.7,1150.9l4.1,4.1l-4.1,4.1l-4.1,-4.1zM1872.0,1150.5l4.1,4.1l-4.1,4.1l-4.1,-4.1zM1913.2,1150.2l4.1,4.1l-4.1,4.1l-4.1,-4.1zM1955.7,1150.4l4.1,4.1l-4.1,4.1l-4.1,-4.1zM1998.2,1149.6l4.1,4.1l-4.1,4.1l-4.1,-4.1zM1999.4,1150.5l4.1,4.1l-4.1,4.1l-4.1,-4.1zM2008.5,1150.0l4.1,4.1l-4.1,4.1l-4.1,-4.1zM2040.7,1149.2l4.1,4.1l-4.1,4.1l-4.1,-4.1zM2083.2,1149.8l4.1,4.1l-4.1,4.1l-4.1,-4.1zM2125.7,1149.5l4.1,4.1l-4.1,4.1l-4.1,-4.1zM2134.7,1149.8l4.1,4.1l-4.1,4.1l-4.1,-4.1zM2168.1,1149.5l4.1,4.1l-4.1,4.1l-4.1,-4.1zM2210.6,1150.0l4.1,4.1l-4.1,4.1l-4.1,-4.1zM2253.1,1149.6l4.1,4.1l-4.1,4.1l-4.1,-4.1zM2262.2,1149.9l4.1,4.1l-4.1,4.1l-4.1,-4.1zM2295.6,1149.2l4.1,4.1l-4.1,4.1l-4.1,-4.1zM2338.1,1149.6l4.1,4.1l-4.1,4.1l-4.1,-4.1zM2380.6,1150.0l4.1,4.1l-4.1,4.1l-4.1,-4.1zM2389.7,1149.8l4.1,4.1l-4.1,4.1l-4.1,-4.1zM2393.5,1149.9l4.1,4.1l-4.1,4.1l-4.1,-4.1z" fill="#7f7f7f"/><path d="M1150.8,1114.5l4.1,4.1l-4.1,4.1l-4.1,-4.1zM1155.9,1118.2l4.1,4.1l-4.1,4.1l-4.1,-4.1zM1162.4,1119.2l4.1,4.1l-4.1,4.1l-4.1,-4.1zM1167.5,1113.3l4.1,4.1l-4.1,4.1l-4.1,-4.1zM1171.4,1122.0l4.1,4.1l-4.1,4.1l-4.1,-4.1zM1177.8,1116.7l4.1,4.1l-4.1,4.1l-4.1,-4.1zM1184.3,1119.8l4.1,4.1l-4.1,4.1l-4.1,-4.1zM1189.4,1122.3l4.1,4.1l-4.1,4.1l-4.1,-4.1zM1190.7,1112.6l4.1,4.1l-4.1,4.1l-4.1,-4.1zM1203.6,1129.8l4.1,4.1l-4.1,4.1l-4.1,-4.1zM1216.5,1122.5l4.1,4.1l-4.1,4.1l-4.1,-4.1zM1233.2,1132.0l4.1,4.1l-4.1,4.1l-4.1,-4.1zM1234.5,1122.8l4.1,4.1l-4.1,4.1l-4.1,-4.1zM1275.7,1121.2l4.1,4.1l-4.1,4.1l-4.1,-4.1zM1318.2,1121.8l4.1,4.1l-4.1,4.1l-4.1,-4.1zM1359.4,1121.5l4.1,4.1l-4.1,4.1l-4.1,-4.1zM1360.7,1127.6l4.1,4.1l-4.1,4.1l-4.1,-4.1zM1362.0,1118.9l4.1,4.1l-4.1,4.1l-4.1,-4.1zM1403.2,1128.7l4.1,4.1l-4.1,4.1l-4.1,-4.1zM1445.7,1132.9l4.1,4.1l-4.1,4.1l-4.1,-4.1zM1488.2,1131.9l4.1,4.1l-4.1,4.1l-4.1,-4.1zM1489.5,1137.1l4.1,4.1l-4.1,4.1l-4.1,-4.1zM1530.7,1123.4l4.1,4.1l-4.1,4.1l-4.1,-4.1zM1573.2,1136.3l4.1,4.1l-4.1,4.1l-4.1,-4.1zM1615.7,1132.9l4.1,4.1l-4.1,4.1l-4.1,-4.1zM1617.0,1129.2l4.1,4.1l-4.1,4.1l-4.1,-4.1zM1658.2,1137.7l4.1,4.1l-4.1,4.1l-4.1,-4.1zM1700.7,1131.4l4.1,4.1l-4.1,4.1l-4.1,-4.1zM1743.2,1133.5l4.1,4.1l-4.1,4.1l-4.1,-4.1zM1744.5,1132.4l4.1,4.1l-4.1,4.1l-4.1,-4.1zM1785.7,1131.9l4.1,4.1l-4.1,4.1l-4.1,-4.1zM1828.2,1130.3l4.1,4.1l-4.1,4.1l-4.1,-4.1zM1870.7,1131.3l4.1,4.1l-4.1,4.1l-4.1,-4.1zM1872.0,1140.1l4.1,4.1l-4.1,4.1l-4.1,-4.1zM1913.2,1131.1l4.1,4.1l-4.1,4.1l-4.1,-4.1zM1955.7,1130.0l4.1,4.1l-4.1,4.1l-4.1,-4.1zM1998.2,1133.9l4.1,4.1l-4.1,4.1l-4.1,-4.1zM1999.4,1139.5l4.1,4.1l-4.1,4.1l-4.1,-4.1zM2008.5,1132.8l4.1,4.1l-4.1,4.1l-4.1,-4.1zM2040.7,1132.8l4.1,4.1l-4.1,4.1l-4.1,-4.1zM2083.2,1128.9l4.1,4.1l-4.1,4.1l-4.1,-4.1zM2125.7,1135.5l4.1,4.1l-4.1,4.1l-4.1,-4.1zM2134.7,1135.8l4.1,4.1l-4.1,4.1l-4.1,-4.1zM2168.1,1132.6l4.1,4.1l-4.1,4.1l-4.1,-4.1zM2210.6,1135.8l4.1,4.1l-4.1,4.1l-4.1,-4.1zM2253.1,1130.7l4.1,4.1l-4.1,4.1l-4.1,-4.1zM2262.2,1134.7l4.1,4.1l-4.1,4.1l-4.1,-4.1zM2295.6,1135.3l4.1,4.1l-4.1,4.1l-4.1,-4.1zM2338.1,1135.7l4.1,4.1l-4.1,4.1l-4.1,-4.1zM2380.6,1133.4l4.1,4.1l-4.1,4.1l-4.1,-4.1zM2389.7,1133.8l4.1,4.1l-4.1,4.1l-4.1,-4.1zM2393.5,1135.7l4.1,4.1l-4.1,4.1l-4.1,-4.1z" fill="#bcbd22"/><path d="M1150.8,1157.7l4.1,4.1l-4.1,4.1l-4.1,-4.1zM1155.9,1157.6l4.1,4.1l-4.1,4.1l-4.1,-4.1zM1162.4,1157.7l4.1,4.1l-4.1,4.1l-4.1,-4.1zM1167.5,1157.5l4.1,4.1l-4.1,4.1l-4.1,-4.1zM1171.4,1157.3l4.1,4.1l-4.1,4.1l-4.1,-4.1zM1177.8,1157.4l4.1,4.1l-4.1,4.1l-4.1,-4.1zM1184.3,1157.4l4.1,4.1l-4.1,4.1l-4.1,-4.1zM1189.4,1157.6l4.1,4.1l-4.1,4.1l-4.1,-4.1zM1190.7,1157.4l4.1,4.1l-4.1,4.1l-4.1,-4.1zM1203.6,1157.8l4.1,4.1l-4.1,4.1l-4.1,-4.1zM1216.5,1157.3l4.1,4.1l-4.1,4.1l-4.1,-4.1zM1233.2,1157.4l4.1,4.1l-4.1,4.1l-4.1,-4.1zM1234.5,1157.5l4.1,4.1l-4.1,4.1l-4.1,-4.1zM1275.7,1158.2l4.1,4.1l-4.1,4.1l-4.1,-4.1zM1318.2,1157.6l4.1,4.1l-4.1,4.1l-4.1,-4.1zM1359.4,1157.9l4.1,4.1l-4.1,4.1l-4.1,-4.1zM1360.7,1157.8l4.1,4.1l-4.1,4.1l-4.1,-4.1zM1362.0,1157.6l4.1,4.1l-4.1,4.1l-4.1,-4.1zM1403.2,1157.1l4.1,4.1l-4.1,4.1l-4.1,-4.1zM1445.7,1157.4l4.1,4.1l-4.1,4.1l-4.1,-4.1zM1488.2,1157.7l4.1,4.1l-4.1,4.1l-4.1,-4.1zM1489.5,1158.0l4.1,4.1l-4.1,4.1l-4.1,-4.1zM1530.7,1158.0l4.1,4.1l-4.1,4.1l-4.1,-4.1zM1573.2,1157.7l4.1,4.1l-4.1,4.1l-4.1,-4.1zM1615.7,1157.7l4.1,4.1l-4.1,4.1l-4.1,-4.1zM1617.0,1157.7l4.1,4.1l-4.1,4.1l-4.1,-4.1zM1658.2,1157.5l4.1,4.1l-4.1,4.1l-4.1,-4.1zM1700.7,1158.0l4.1,4.1l-4.1,4.1l-4.1,-4.1zM1743.2,1157.7l4.1,4.1l-4.1,4.1l-4.1,-4.1zM1744.5,1157.4l4.1,4.1l-4.1,4.1l-4.1,-4.1zM1785.7,1157.8l4.1,4.1l-4.1,4.1l-4.1,-4.1zM1828.2,1158.0l4.1,4.1l-4.1,4.1l-4.1,-4.1zM1870.7,1157.7l4.1,4.1l-4.1,4.1l-4.1,-4.1zM1872.0,1157.5l4.1,4.1l-4.1,4.1l-4.1,-4.1zM1913.2,1157.8l4.1,4.1l-4.1,4.1l-4.1,-4.1zM1955.7,1157.7l4.1,4.1l-4.1,4.1l-4.1,-4.1zM1998.2,1157.7l4.1,4.1l-4.1,4.1l-4.1,-4.1zM1999.4,1158.0l4.1,4.1l-4.1,4.1l-4.1,-4.1zM2008.5,1158.1l4.1,4.1l-4.1,4.1l-4.1,-4.1zM2040.7,1157.9l4.1,4.1l-4.1,4.1l-4.1,-4.1zM2083.2,1157.6l4.1,4.1l-4.1,4.1l-4.1,-4.1zM2125.7,1157.7l4.1,4.1l-4.1,4.1l-4.1,-4.1zM2134.7,1157.7l4.1,4.1l-4.1,4.1l-4.1,-4.1zM2168.1,1157.8l4.1,4.1l-4.1,4.1l-4.1,-4.1zM2210.6,1157.4l4.1,4.1l-4.1,4.1l-4.1,-4.1zM2253.1,1157.7l4.1,4.1l-4.1,4.1l-4.1,-4.1zM2262.2,1157.6l4.1,4.1l-4.1,4.1l-4.1,-4.1zM2295.6,1157.8l4.1,4.1l-4.1,4.1l-4.1,-4.1zM2338.1,1157.8l4.1,4.1l-4.1,4.1l-4.1,-4.1zM2380.6,1157.5l4.1,4.1l-4.1,4.1l-4.1,-4.1zM2389.7,1158.3l4.1,4.1l-4.1,4.1l-4.1,-4.1zM2393.5,1157.8l4.1,4.1l-4.1,4.1l-4.1,-4.1z" fill="#17becf"/><path d="M1150.8,1112.1l4.1,4.1l-4.1,4.1l-4.1,-4.1zM1155.9,1113.6l4.1,4.1l-4.1,4.1l-4.1,-4.1zM1162.4,1123.8l4.1,4.1l-4.1,4.1l-4.1,-4.1zM1167.5,1113.0l4.1,4.1l-4.1,4.1l-4.1,-4.1zM1171.4,1123.7l4.1,4.1l-4.1,4.1l-4.1,-4.1zM1177.8,1120.8l4.1,4.1l-4.1,4.1l-4.1,-4.1zM1184.3,1127.0l4.1,4.1l-4.1,4.1l-4.1,-4.1zM1189.4,1124.1l4.1,4.1l-4.1,4.1l-4.1,-4.1zM1190.7,1120.5l4.1,4.1l-4.1,4.1l-4.1,-4.1zM1203.6,1124.0l4.1,4.1l-4.1,4.1l-4.1,-4.1zM1216.5,1114.9l4.1,4.1l-4.1,4.1l-4.1,-4.1zM1233.2,1098.8l4.1,4.1l-4.1,4.1l-4.1,-4.1zM1234.5,1116.4l4.1,4.1l-4.1,4.1l-4.1,-4.1zM1275.7,1116.9l4.1,4.1l-4.1,4.1l-4.1,-4.1zM1318.2,1117.5l4.1,4.1l-4.1,4.1l-4.1,-4.1zM1359.4,1135.8l4.1,4.1l-4.1,4.1l-4.1,-4.1zM1360.7,1119.5l4.1,4.1l-4.1,4.1l-4.1,-4.1zM1362.0,1138.0l4.1,4.1l-4.1,4.1l-4.1,-4.1zM1403.2,1114.5l4.1,4.1l-4.1,4.1l-4.1,-4.1zM1445.7,1112.5l4.1,4.1l-4.1,4.1l-4.1,-4.1zM1488.2,1117.2l4.1,4.1l-4.1,4.1l-4.1,-4.1zM1489.5,1113.4l4.1,4.1l-4.1,4.1l-4.1,-4.1zM1530.7,1113.1l4.1,4.1l-4.1,4.1l-4.1,-4.1zM1573.2,1109.3l4.1,4.1l-4.1,4.1l-4.1,-4.1zM1615.7,1124.8l4.1,4.1l-4.1,4.1l-4.1,-4.1zM1617.0,1129.1l4.1,4.1l-4.1,4.1l-4.1,-4.1zM1658.2,1120.0l4.1,4.1l-4.1,4.1l-4.1,-4.1zM1700.7,1122.3l4.1,4.1l-4.1,4.1l-4.1,-4.1zM1743.2,1118.4l4.1,4.1l-4.1,4.1l-4.1,-4.1zM1744.5,1121.1l4.1,4.1l-4.1,4.1l-4.1,-4.1zM1785.7,1122.7l4.1,4.1l-4.1,4.1l-4.1,-4.1zM1828.2,1116.8l4.1,4.1l-4.1,4.1l-4.1,-4.1zM1870.7,1135.6l4.1,4.1l-4.1,4.1l-4.1,-4.1zM1872.0,1146.3l4.1,4.1l-4.1,4.1l-4.1,-4.1zM1913.2,1134.8l4.1,4.1l-4.1,4.1l-4.1,-4.1zM1955.7,1126.8l4.1,4.1l-4.1,4.1l-4.1,-4.1zM1998.2,1106.9l4.1,4.1l-4.1,4.1l-4.1,-4.1zM1999.4,1107.6l4.1,4.1l-4.1,4.1l-4.1,-4.1zM2008.5,1099.4l4.1,4.1l-4.1,4.1l-4.1,-4.1zM2040.7,1092.2l4.1,4.1l-4.1,4.1l-4.1,-4.1zM2083.2,1115.7l4.1,4.1l-4.1,4.1l-4.1,-4.1zM2125.7,1113.3l4.1,4.1l-4.1,4.1l-4.1,-4.1zM2134.7,1120.9l4.1,4.1l-4.1,4.1l-4.1,-4.1zM2168.1,1103.5l4.1,4.1l-4.1,4.1l-4.1,-4.1zM2210.6,1124.3l4.1,4.1l-4.1,4.1l-4.1,-4.1zM2253.1,1098.8l4.1,4.1l-4.1,4.1l-4.1,-4.1zM2262.2,1101.9l4.1,4.1l-4.1,4.1l-4.1,-4.1zM2295.6,1106.9l4.1,4.1l-4.1,4.1l-4.1,-4.1zM2338.1,1111.6l4.1,4.1l-4.1,4.1l-4.1,-4.1zM2380.6,1120.6l4.1,4.1l-4.1,4.1l-4.1,-4.1zM2389.7,1105.6l4.1,4.1l-4.1,4.1l-4.1,-4.1zM2393.5,1111.1l4.1,4.1l-4.1,4.1l-4.1,-4.1z" fill="#1f77b4"/><path d="M1150.8,1158.4l4.1,4.1l-4.1,4.1l-4.1,-4.1zM1155.9,960.8l4.1,4.1l-4.1,4.1l-4.1,-4.1zM1162.4,1158.4l4.1,4.1l-4.1,4.1l-4.1,-4.1zM1167.5,968.9l4.1,4.1l-4.1,4.1l-4.1,-4.1zM1171.4,953.7l4.1,4.1l-4.1,4.1l-4.1,-4.1zM1177.8,938.8l4.1,4.1l-4.1,4.1l-4.1,-4.1zM1184.3,950.8l4.1,4.1l-4.1,4.1l-4.1,-4.1zM1189.4,949.8l4.1,4.1l-4.1,4.1l-4.1,-4.1zM1190.7,929.4l4.1,4.1l-4.1,4.1l-4.1,-4.1zM1203.6,948.8l4.1,4.1l-4.1,4.1l-4.1,-4.1zM1216.5,927.3l4.1,4.1l-4.1,4.1l-4.1,-4.1zM1233.2,949.4l4.1,4.1l-4.1,4.1l-4.1,-4.1zM1234.5,1015.4l4.1,4.1l-4.1,4.1l-4.1,-4.1zM1275.7,905.5l4.1,4.1l-4.1,4.1l-4.1,-4.1zM1318.2,927.6l4.1,4.1l-4.1,4.1l-4.1,-4.1zM1359.4,936.4l4.1,4.1l-4.1,4.1l-4.1,-4.1zM1360.7,939.2l4.1,4.1l-4.1,4.1l-4.1,-4.1zM1362.0,921.6l4.1,4.1l-4.1,4.1l-4.1,-4.1zM1403.2,930.8l4.1,4.1l-4.1,4.1l-4.1,-4.1zM1445.7,954.1l4.1,4.1l-4.1,4.1l-4.1,-4.1zM1488.2,933.8l4.1,4.1l-4.1,4.1l-4.1,-4.1zM1489.5,926.4l4.1,4.1l-4.1,4.1l-4.1,-4.1zM1530.7,921.8l4.1,4.1l-4.1,4.1l-4.1,-4.1zM1573.2,882.8l4.1,4.1l-4.1,4.1l-4.1,-4.1zM1615.7,944.8l4.1,4.1l-4.1,4.1l-4.1,-4.1zM1617.0,934.6l4.1,4.1l-4.1,4.1l-4.1,-4.1zM1658.2,938.0l4.1,4.1l-4.1,4.1l-4.1,-4.1zM1700.7,929.6l4.1,4.1l-4.1,4.1l-4.1,-4.1zM1743.2,991.0l4.1,4.1l-4.1,4.1l-4.1,-4.1zM1744.5,973.9l4.1,4.1l-4.1,4.1l-4.1,-4.1zM1785.7,970.8l4.1,4.1l-4.1,4.1l-4.1,-4.1zM1828.2,970.8l4.1,4.1l-4.1,4.1l-4.1,-4.1zM1870.7,945.4l4.1,4.1l-4.1,4.1l-4.1,-4.1zM1872.0,956.4l4.1,4.1l-4.1,4.1l-4.1,-4.1zM1913.2,955.0l4.1,4.1l-4.1,4.1l-4.1,-4.1zM1955.7,1027.6l4.1,4.1l-4.1,4.1l-4.1,-4.1zM1998.2,891.4l4.1,4.1l-4.1,4.1l-4.1,-4.1zM1999.4,915.6l4.1,4.1l-4.1,4.1l-4.1,-4.1zM2008.5,881.7l4.1,4.1l-4.1,4.1l-4.1,-4.1zM2040.7,896.0l4.1,4.1l-4.1,4.1l-4.1,-4.1zM2083.2,868.4l4.1,4.1l-4.1,4.1l-4.1,-4.1zM2125.7,925.8l4.1,4.1l-4.1,4.1l-4.1,-4.1zM2134.7,936.4l4.1,4.1l-4.1,4.1l-4.1,-4.1zM2168.1,941.7l4.1,4.1l-4.1,4.1l-4.1,-4.1zM2210.6,891.1l4.1,4.1l-4.1,4.1l-4.1,-4.1zM2253.1,951.8l4.1,4.1l-4.1,4.1l-4.1,-4.1zM2262.2,896.8l4.1,4.1l-4.1,4.1l-4.1,-4.1zM2295.6,950.8l4.1,4.1l-4.1,4.1l-4.1,-4.1zM2338.1,966.1l4.1,4.1l-4.1,4.1l-4.1,-4.1zM2380.6,913.5l4.1,4.1l-4.1,4.1l-4.1,-4.1zM2389.7,848.9l4.1,4.1l-4.1,4.1l-4.1,-4.1zM2393.5,901.7l4.1,4.1l-4.1,4.1l-4.1,-4.1z" fill="#ff7f0e"/><path d="M1075.5,795V1186" stroke="#444" stroke-width="1" shape-rendering="crispEdges"/><text x="1072.3999999999999" y="1167.8999999999999" text-anchor="end" font-size="15.5" fill="#444" letter-spacing="1.1">0</text><text x="1072.3999999999999" y="1115.8999999999999" text-anchor="end" font-size="15.5" fill="#444" letter-spacing="1.1">0.2E+9</text><text x="1072.3999999999999" y="1063.8999999999999" text-anchor="end" font-size="15.5" fill="#444" letter-spacing="1.1">0.4E+9</text><text x="1072.3999999999999" y="1011.9" text-anchor="end" font-size="15.5" fill="#444" letter-spacing="1.1">0.6E+9</text><text x="1072.3999999999999" y="959.9" text-anchor="end" font-size="15.5" fill="#444" letter-spacing="1.1">0.8E+9</text><text x="1072.3999999999999" y="907.9" text-anchor="end" font-size="15.5" fill="#444" letter-spacing="1.1">1E+9</text><text x="1072.3999999999999" y="855.9" text-anchor="end" font-size="15.5" fill="#444" letter-spacing="1.1">1.2E+9</text><text x="1072.3999999999999" y="803.9" text-anchor="end" font-size="15.5" fill="#444" letter-spacing="1.1">1.4E+9</text><text x="1150.05" y="1201.3" text-anchor="middle" font-size="15.5" fill="#444" letter-spacing="1.1">0</text><text x="1407.61" y="1201.3" text-anchor="middle" font-size="15.5" fill="#444" letter-spacing="1.1">200</text><text x="1665.1699999999998" y="1201.3" text-anchor="middle" font-size="15.5" fill="#444" letter-spacing="1.1">400</text><text x="1922.73" y="1201.3" text-anchor="middle" font-size="15.5" fill="#444" letter-spacing="1.1">600</text><text x="2180.29" y="1201.3" text-anchor="middle" font-size="15.5" fill="#444" letter-spacing="1.1">800</text><text x="2437.8500000000004" y="1201.3" text-anchor="middle" font-size="15.5" fill="#444" letter-spacing="1.1">1000</text><text x="1781.5" y="1218.4" text-anchor="middle" font-size="17.6" fill="#444" letter-spacing="1.25">Injection Sequence</text><text transform="translate(1007.6,990) rotate(-90)" text-anchor="middle" font-size="17.6" fill="#444" letter-spacing="1.65">Intensity</text></svg>
<div id="menu" class="abs">
<div class="row" style="top:0.5px"><svg style="left:14px;top:12.1px" width="18" height="16" viewBox="0 0 18 16" fill="none" stroke="#000" stroke-width="1.8"><path d="M1.3,8C3,4.2 5.8,2.2 9,2.2S15,4.2 16.7,8C15,11.8 12.2,13.8 9,13.8S3,11.8 1.3,8Z"/><circle cx="9" cy="8" r="2.7"/></svg><span style="left:39.6px;top:8.5px">View</span></div>
<div class="row" style="top:42.5px"><svg style="left:12.2px;top:13.6px" width="19" height="16" viewBox="0 0 19 16" fill="none" stroke="#6b6e73" stroke-width="1.9"><path d="M0.6,5.2H16.6L12.4,1.2"/><path d="M17.6,10.2H1.6L5.8,14.4"/></svg><span>Total Ion Chromatogram</span></div>
<div class="row" style="top:84.5px"><svg style="left:12.2px;top:13.6px" width="19" height="16" viewBox="0 0 19 16" fill="none" stroke="#6b6e73" stroke-width="1.9"><path d="M0.6,5.2H16.6L12.4,1.2"/><path d="M17.6,10.2H1.6L5.8,14.4"/></svg><span style="letter-spacing:0">Extract Ion Chromatogram</span></div>
<div class="row hl" style="top:127.5px;height:43px"><svg style="left:15.6px;top:10.2px" width="15.4" height="17.2" viewBox="0 0 17 19" fill="none" stroke="#000" stroke-width="1.8" stroke-linejoin="round"><path d="M8.5,1.4L15.6,5.4V13.6L8.5,17.6L1.4,13.6V5.4Z"/><path d="M1.6,5.5L8.5,9.5L15.4,5.5M8.5,9.5V17.4"/></svg><span style="top:6.4px;left:36.6px;letter-spacing:-.28px">Select Data</span><svg style="left:269px;top:12.6px" width="8" height="12" viewBox="0 0 8 12" fill="none" stroke="#000" stroke-width="1.7"><path d="M1.5,1.3L6.3,5.8L1.5,10.3"/></svg></div>
</div>
<div id="sub" class="abs"><i></i>
<div style="top:9.4px;transform:scaleX(1.0)">All data</div>
<div style="top:46.9px;transform:scaleX(0.86)">RECOX1</div>
<div style="top:84.4px;transform:scaleX(0.86)">RECOX2</div>
<div style="top:121.9px;transform:scaleX(0.895)">SQC500_1</div>
<div style="top:159.4px;transform:scaleX(0.9)">BQC1</div>
<div style="top:196.9px;transform:scaleX(0.97)">105</div>
<div style="top:234.4px;transform:scaleX(0.97)">126</div>
<div style="top:271.9px;transform:scaleX(0.97)">102</div>
<div style="top:309.4px;transform:scaleX(0.97)">1097</div>
<div style="top:346.9px;transform:scaleX(0.9)">BQC2</div>
<div style="top:384.4px;transform:scaleX(0.86)">RECOX3</div>
<div style="top:421.9px;transform:scaleX(0.86)">RECOX4</div>
<div style="top:459.4px;transform:scaleX(0.86)">RECOX5</div>
<div style="top:496.9px;transform:scaleX(0.86)">RECOX6</div>
<div style="top:534.4px;transform:scaleX(0.9)">BQC3</div>
<div style="top:571.9px;transform:scaleX(0.9)">BQC4</div>
<div style="top:609.4px;transform:scaleX(0.9)">BQC5</div>
</div>
</body></html>
